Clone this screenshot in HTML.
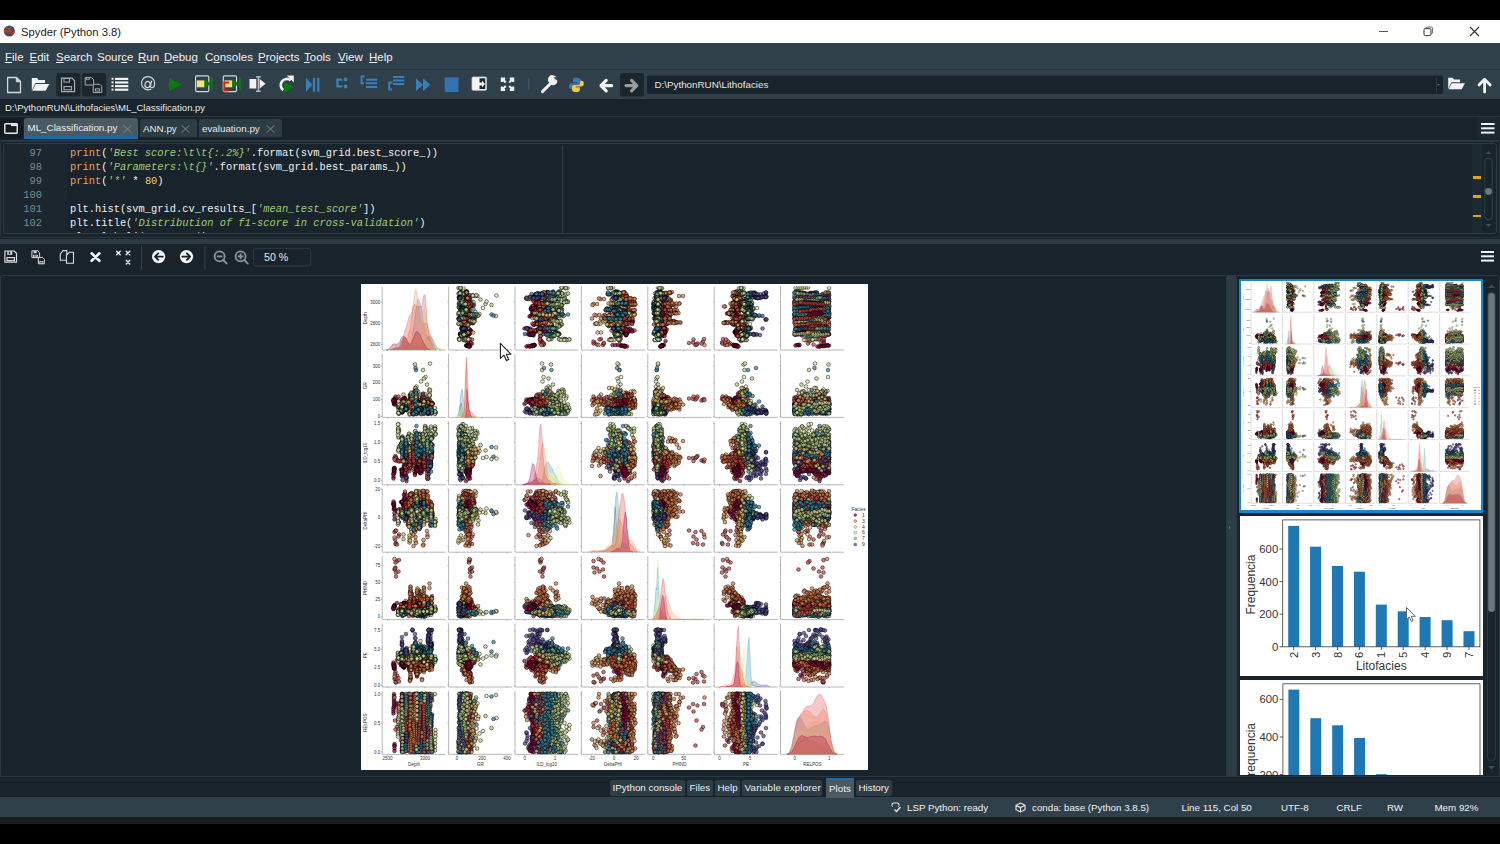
<!DOCTYPE html>
<html><head><meta charset="utf-8">
<style>
*{margin:0;padding:0;box-sizing:border-box}
html,body{width:1500px;height:844px;overflow:hidden;background:#000;font-family:"Liberation Sans",sans-serif;position:relative}
.a{position:absolute}
svg.a{overflow:visible}
#title{left:0;top:20px;width:1500px;height:23px;background:#fff;}
#menu{left:0;top:43px;width:1500px;height:26px;background:#30404a;}
#tool{left:0;top:69px;width:1500px;height:30px;background:#30404a;border-top:1px solid #28353d}
#pathrow{left:0;top:99px;width:1500px;height:18px;background:#19232b;}
#tabrow{left:0;top:117px;width:1500px;height:23px;background:#19232b;}
#editor{left:0;top:140px;width:1500px;height:99px;background:#19232b;}
#split{left:0;top:239px;width:1500px;height:5px;background:#2c3a43;}
#ptool{left:0;top:244px;width:1500px;height:31px;background:#19232b;}
#parea{left:0;top:275px;width:1500px;height:502px;background:#19232b;}
#btabs{left:0;top:777px;width:1500px;height:21px;background:#19232b;}
#status{left:0;top:797px;width:1500px;height:20px;background:#30404a;}
#bstrip{left:0;top:817px;width:1500px;height:7px;background:#1e1e1e;}
.tt{font-size:11.25px;color:#222;top:24.5px;line-height:14px;white-space:nowrap}
.mt{color:#F0F0F0;font-size:11.5px;top:50px;line-height:14px;white-space:nowrap}
.code{font-family:"Liberation Mono",monospace;font-size:10.4px;line-height:14px;white-space:pre;color:#F0F0F0}
.ln{font-family:"Liberation Mono",monospace;font-size:10.4px;line-height:14px;white-space:pre;color:#7d8a92;text-align:right;width:38px}
.st{font-size:9.75px;color:#F0F0F0;top:802px;line-height:12px;white-space:nowrap}
.tab{font-size:10.5px;color:#F0F0F0;line-height:13px;white-space:nowrap}
.kw{color:#e3a05d}.str{color:#9fcb78;font-style:italic}.num{color:#e6d07a}
</style></head><body>
<div class="a" id="title"></div>
<div class="a" id="menu"></div>
<div class="a" id="tool"></div>
<div class="a" id="pathrow"></div>
<div class="a" id="tabrow"></div>
<div class="a" id="editor"></div>
<div class="a" id="split"></div>
<div class="a" id="ptool"></div>
<div class="a" id="parea"></div>
<div class="a" id="btabs"></div>
<div class="a" id="status"></div>
<div class="a" id="bstrip"></div>

<!-- title bar -->
<svg class="a" style="left:3px;top:25px" width="13" height="12" viewBox="0 0 13 12">
<circle cx="6.3" cy="6" r="5.5" fill="#4a4a4a"/>
<path d="M0.8 5 Q3 3.5 5 6 L7 4 L9.5 7.5 L12 5.5 L11.8 7.5 L9.5 9 L7 6.5 L5 8.5 Q3 6 1 7 Z" fill="#e0301e"/>
<path d="M3 2 L6 4 L9 1.8" fill="none" stroke="#888" stroke-width=".8"/>
</svg>
<div class="a tt" style="left:21px">Spyder (Python 3.8)</div>
<div class="a" style="left:1379px;top:30.6px;width:9px;height:1.2px;background:#555"></div>
<svg class="a" style="left:1423px;top:26px" width="11" height="11" viewBox="0 0 11 11"><rect x="1" y="2.6" width="7" height="7" rx="1.2" fill="none" stroke="#333" stroke-width="1"/><path d="M2.8 2.4 Q3 1 4.4 1 H8.3 Q9.6 1 9.6 2.3 V6.2 Q9.6 7.6 8.3 7.8" fill="none" stroke="#555" stroke-width="0.9"/></svg>
<svg class="a" style="left:1469px;top:26px" width="11" height="11" viewBox="0 0 11 11"><path d="M1 1 L10 10 M10 1 L1 10" stroke="#333" stroke-width="1.2"/></svg>

<!-- menu -->
<div class="a mt" style="left:5px"><u>F</u>ile</div>
<div class="a mt" style="left:29.5px"><u>E</u>dit</div>
<div class="a mt" style="left:56px"><u>S</u>earch</div>
<div class="a mt" style="left:97px">Sour<u>c</u>e</div>
<div class="a mt" style="left:138px"><u>R</u>un</div>
<div class="a mt" style="left:164px"><u>D</u>ebug</div>
<div class="a mt" style="left:205px">C<u>o</u>nsoles</div>
<div class="a mt" style="left:258px"><u>P</u>rojects</div>
<div class="a mt" style="left:304px"><u>T</u>ools</div>
<div class="a mt" style="left:338px"><u>V</u>iew</div>
<div class="a mt" style="left:369px"><u>H</u>elp</div>

<!-- toolbar -->
<svg class="a" style="left:0;top:69px" width="1500" height="30" viewBox="0 69 1500 30">
<!-- new file -->
<path d="M7.6 77.5 H16.5 L20.5 81.5 V92.5 H7.6 Z" fill="none" stroke="#d8d8d8" stroke-width="1.3" stroke-linejoin="round"/>
<path d="M16.3 77.6 V81.7 H20.4" fill="#d8d8d8" stroke="#d8d8d8" stroke-width="1"/>
<!-- open folder -->
<path d="M31.8 78 H37 L38.5 80 H45 V83 H35.5 L31.8 90.5 Z" fill="#f2f2f2"/>
<path d="M35.8 84 H49.4 L45.6 90.8 H32.2 Z" fill="#f2f2f2"/>
<!-- save bg -->
<rect x="56.3" y="73" width="24" height="23.4" rx="2.5" fill="#1a252c"/>
<path d="M61.5 78.2 H72 L74.6 80.8 V91.6 H61.5 Z" fill="none" stroke="#a9adb0" stroke-width="1.2"/>
<rect x="64" y="78.5" width="5.5" height="3.6" fill="none" stroke="#a9adb0" stroke-width="1"/>
<rect x="64" y="86.6" width="7.5" height="3.2" fill="none" stroke="#a9adb0" stroke-width="1.1"/>
<!-- save all bg -->
<rect x="81.9" y="73" width="24.3" height="23.4" rx="2.5" fill="#1a252c"/>
<path d="M85.2 77.6 H91.5 L93.6 79.7 V85 H85.2 Z" fill="none" stroke="#a9adb0" stroke-width="1"/>
<path d="M93.2 84.3 H99.8 L101.8 86.3 V92.5 H93.2 Z" fill="#1a252c" stroke="#a9adb0" stroke-width="1"/>
<rect x="95.3" y="88.8" width="4.3" height="2.2" fill="none" stroke="#a9adb0" stroke-width="0.9"/>
<rect x="86.6" y="77.7" width="2.6" height="2" fill="none" stroke="#a9adb0" stroke-width="0.8"/>
<!-- list -->
<g fill="#f0f0f0"><rect x="111.5" y="77.8" width="2" height="2"/><rect x="111.5" y="81.4" width="2" height="2"/><rect x="111.5" y="85" width="2" height="2"/><rect x="111.5" y="88.6" width="2" height="2"/>
<rect x="115" y="77.8" width="13.3" height="2.2"/><rect x="115" y="81.4" width="13.3" height="2.2"/><rect x="115" y="85" width="13.3" height="2.2"/><rect x="115" y="88.6" width="13.3" height="2.2"/></g>
<!-- @ -->
<path d="M151.3 88.9 A6.6 6.6 0 1 1 154.6 83.4 Q154.6 87.6 151.8 87.6 Q150.2 87.6 150.6 85.5 L151.6 80.6" fill="none" stroke="#d6d6d6" stroke-width="1.2"/><ellipse cx="147.6" cy="84.6" rx="2.6" ry="3.1" fill="none" stroke="#d6d6d6" stroke-width="1.2" transform="rotate(15 147.6 84.6)"/>
<!-- play -->
<path d="M169 77.8 L181.6 84.5 L169 91.2 Z" fill="#0a7a0a"/>
<!-- run cell -->
<rect x="195.6" y="75.8" width="13.2" height="15.8" rx="1.3" fill="none" stroke="#d6d6d6" stroke-width="1.2"/>
<rect x="196.8" y="80.4" width="7.8" height="6.9" fill="#f5e27a"/>
<path d="M204.5 79 L211 83.8 L204.5 88.6 Z" fill="#0a7a0a"/><rect x="211" y="77.4" width="1.9" height="12.2" fill="#0a7a0a"/>
<!-- run cell advance -->
<rect x="223.3" y="75.8" width="13.2" height="15.8" rx="1.3" fill="none" stroke="#d6d6d6" stroke-width="1.2"/>
<rect x="224.5" y="80.4" width="7.8" height="6.9" fill="#f5e27a"/>
<path d="M232.5 79 L239 83.8 L232.5 88.6 Z" fill="#0a7a0a"/><rect x="239" y="77.4" width="1.9" height="12.2" fill="#0a7a0a"/>
<path d="M229 82.5 H224.3 V90.5 H228.5" fill="none" stroke="#ee1c0a" stroke-width="2"/>
<!-- run selection -->
<rect x="249.5" y="79" width="6.8" height="9.5" fill="#f2f2f2"/>
<rect x="257.6" y="76" width="1.6" height="16" fill="#b8b8b8"/>
<rect x="256" y="76.2" width="4.8" height="1.4" fill="#b8b8b8"/><rect x="256" y="90.6" width="4.8" height="1.4" fill="#b8b8b8"/>
<path d="M259.6 79 L265.6 83.8 L259.6 88.6 Z" fill="#f2f2f2"/>
<!-- re-run -->
<path d="M290.8 80.2 A6.2 6.2 0 1 0 283.2 90.2" fill="none" stroke="#f2f2f2" stroke-width="2.6"/>
<path d="M286.8 75.6 H293.8 V82.6 Z" fill="#f2f2f2"/>
<path d="M284.2 82 L293.8 87 L284.2 92.8 Z" fill="#0a7a0a"/>
<!-- debug -->
<g fill="#3a7ebd"><path d="M306 77.8 L312.4 84.7 L306 91.7 Z"/><rect x="312.9" y="77.8" width="2.2" height="13.9"/><rect x="317.2" y="77.8" width="2.2" height="13.9"/></g>
<!-- blue icons -->
<g fill="none" stroke="#3a7ebd" stroke-width="2.3">
<path d="M342 79.6 H337.4 V86.4 H342"/>
</g>
<g fill="#3a7ebd"><circle cx="345.5" cy="79.4" r="1.9"/><circle cx="345.5" cy="86.5" r="1.9"/></g>
<g fill="none" stroke="#3a7ebd" stroke-width="2">
<path d="M364.5 76.4 H361.6 V83.2 H364"/><path d="M366 79.7 H377.2 M366 83.3 H377.2 M366 86.9 H377.2"/>
</g>
<g fill="none" stroke="#3a7ebd" stroke-width="2">
<path d="M392.5 82.5 H389.2 V89.5 H392"/><path d="M393 76.9 H404.3 M393 80.5 H404.3 M393 84.1 H404.3"/>
</g>
<g fill="#3a7ebd"><path d="M416 78.2 L423 84.7 L416 91.2 Z"/><path d="M423 78.2 L430.3 84.7 L423 91.2 Z"/></g>
<rect x="444.6" y="77.4" width="13.9" height="14.7" fill="#3572b0"/>
<!-- white box arrow -->
<rect x="472" y="77" width="14.5" height="13.3" rx="1.2" fill="#f4f4f4" stroke="#d0d0d0" stroke-width="0.8"/>
<path d="M479.5 78.3 H485.3 V89 H479.5 Z" fill="#1c262c"/>
<path d="M478.3 82.6 H482 V80.4 L485 84 L482 87.6 V85.4 H478.3 Z" fill="#f4f4f4"/>
<!-- maximize -->
<g fill="none" stroke="#f0f0f0" stroke-width="2.1">
<path d="M501.8 78.6 L505.8 82.6 M501.8 82 V78.6 H505.2"/><path d="M513.2 78.6 L509.2 82.6 M513.2 82 V78.6 H509.8"/>
<path d="M501.8 90 L505.8 86 M501.8 86.6 V90 H505.2"/><path d="M513.2 90 L509.2 86 M513.2 86.6 V90 H509.8"/>
</g>
<rect x="528.3" y="78.7" width="1" height="10.8" fill="#4d5d66"/>
<!-- wrench -->
<path d="M542.6 91.5 L550.5 83.5" stroke="#f0f0f0" stroke-width="3.2" stroke-linecap="round"/>
<path d="M550 83 A4.3 4.3 0 1 1 556.5 80.5 L554 80.8 L552.4 79 L553.5 77.4 A4.3 4.3 0 0 0 550 83Z" fill="#f0f0f0"/>
<circle cx="553" cy="81" r="4.3" fill="#f0f0f0"/><path d="M553.5 77.5 L557.5 81 L556.5 77 Z" fill="#30404a"/>
<!-- python -->
<path d="M576.5 77.8 C573 77.8 573 79 573 80.5 V82.5 H577 V83.3 H571.3 C569.4 83.3 569 85 569 86.2 C569 88 569.6 89 571.2 89 H572.6 V87 C572.6 85.6 573.8 84.8 575 84.8 H578.8 C580.1 84.8 580.8 84 580.8 82.8 V80.4 C580.8 78.6 579 77.8 576.5 77.8 Z" fill="#3b77b0"/>
<path d="M576.3 92 C579.8 92 579.8 90.8 579.8 89.3 V87.3 H575.8 V86.5 H581.5 C583.4 86.5 583.8 84.8 583.8 83.6 C583.8 81.8 583.2 80.8 581.6 80.8 H580.2 V82.8 C580.2 84.2 579 85 577.8 85 H574 C572.7 85 572 85.8 572 87 V89.4 C572 91.2 573.8 92 576.3 92 Z" fill="#f0cc3c"/>
<!-- back -->
<path d="M611.8 85.6 H601 M606.2 80.4 L601 85.6 L606.2 90.8" fill="none" stroke="#f4f4f4" stroke-width="3.2" stroke-linecap="round" stroke-linejoin="round"/>
<!-- forward bg -->
<rect x="620" y="73" width="24" height="23.4" rx="2.5" fill="#1a252c"/>
<path d="M626 85.6 H636.8 M631.6 80.4 L636.8 85.6 L631.6 90.8" fill="none" stroke="#9a9a9a" stroke-width="3.2" stroke-linecap="round" stroke-linejoin="round"/>
<!-- combo -->
<rect x="647" y="75.5" width="796" height="18.5" rx="2" fill="#19232b"/>
<rect x="1436" y="77" width="1" height="15.5" fill="#2a3740"/>
<path d="M1437 84 L1440 84 L1438.5 85.5 Z" fill="#6a767e"/>
<text x="654.5" y="88.2" font-family="Liberation Sans" font-size="9.8" fill="#e8e8e8">D:\PythonRUN\Lithofacies</text>
<!-- open folder right -->
<path d="M1448.2 77.8 H1452.5 L1454 79.5 H1460 V82.3 H1451.5 L1448.2 89 Z" fill="#f2f2f2"/>
<path d="M1451.8 83.2 H1465 L1461.6 89.3 H1448.6 Z" fill="#f2f2f2"/>
<!-- up arrow -->
<path d="M1484.6 92 V80 M1479 85 L1484.6 79.2 L1490.2 85" fill="none" stroke="#f4f4f4" stroke-width="2.8" stroke-linecap="round" stroke-linejoin="round"/>
</svg>


<!-- path row -->
<div class="a" style="left:5px;top:101px;font-size:9.5px;color:#e8e8e8;line-height:13px;white-space:nowrap">D:\PythonRUN\Lithofacies\ML_Classification.py</div>

<!-- tabs -->
<div class="a" style="left:0;top:116px;width:1500px;height:1px;background:#28353d"></div>
<div class="a" style="left:0;top:117.5px;width:23px;height:21px;background:#121b21;border-radius:3px"></div>
<svg class="a" style="left:4px;top:123px" width="14" height="11" viewBox="0 0 14 11"><rect x="0.8" y="0.8" width="12.4" height="9.4" rx="0.8" fill="none" stroke="#e8e8e8" stroke-width="1.4"/><rect x="7" y="0.5" width="6.5" height="2.6" fill="#e8e8e8"/></svg>
<div class="a" style="left:24px;top:117.5px;width:114px;height:21.5px;background:#4b5962;border-radius:3px 3px 0 0"></div>
<div class="a" style="left:24px;top:136px;width:114px;height:3px;background:#1d6aa5"></div>
<div class="a tab" style="left:27.5px;top:121px;font-size:9.8px;color:#f0f0f0">ML_Classification.py</div>
<svg class="a" style="left:122.5px;top:125px" width="9" height="8" viewBox="0 0 9 8"><path d="M0.5 0.3 L8.5 7.7 M8.5 0.3 L0.5 7.7" stroke="#7c8890" stroke-width="1"/></svg>
<div class="a" style="left:140px;top:119.4px;width:56.5px;height:18px;background:#2e3c45;border-radius:3px 3px 0 0"></div>
<div class="a tab" style="left:143px;top:122px;font-size:9.8px;color:#e8e8e8">ANN.py</div>
<svg class="a" style="left:181px;top:125px" width="9" height="8" viewBox="0 0 9 8"><path d="M0.5 0.3 L8.5 7.7 M8.5 0.3 L0.5 7.7" stroke="#7c8890" stroke-width="1"/></svg>
<div class="a" style="left:198.5px;top:119.4px;width:83px;height:18px;background:#2e3c45;border-radius:3px 3px 0 0"></div>
<div class="a tab" style="left:202px;top:122px;font-size:9.8px;color:#e8e8e8">evaluation.py</div>
<svg class="a" style="left:266px;top:125px" width="9" height="8" viewBox="0 0 9 8"><path d="M0.5 0.3 L8.5 7.7 M8.5 0.3 L0.5 7.7" stroke="#7c8890" stroke-width="1"/></svg>
<div class="a" style="left:1477px;top:117px;width:23px;height:22px;background:#1c2730;border-radius:2px"></div>
<svg class="a" style="left:1481px;top:122.5px" width="14" height="11" viewBox="0 0 14 11"><g fill="#f0f0f0"><rect x="0" y="0" width="13.5" height="2"/><rect x="0" y="4.3" width="13.5" height="2"/><rect x="0" y="8.6" width="13.5" height="2"/></g></svg>


<!-- editor -->
<div class="a" style="left:0;top:139.5px;width:1500px;height:1px;background:#2a3841"></div>
<div class="a" style="left:0;top:140.5px;width:1500px;height:97px;border:1px solid #27343c;border-radius:3px;background:#19232b"></div>
<div class="a" style="left:3px;top:142.5px;width:1494px;height:91.5px;border:1px solid #2c3a43;border-radius:3px;background:#19232b"></div>
<div class="a" style="left:4px;top:143.5px;width:63px;height:89.5px;background:#1b262e"></div>
<div class="a" style="left:0;top:143.5px;width:1470px;height:89.4px;overflow:hidden"><div class="a ln" style="left:4px;top:2.2px">97
98
99
100
101
102</div>
<div class="a code" style="left:70px;top:2.2px"><span class="kw">print</span>(<span class="str">'Best score:\t\t{:.2%}'</span>.format(svm_grid.best_score_))
<span class="kw">print</span>(<span class="str">'Parameters:\t{}'</span>.format(svm_grid.best_params_))
<span class="kw">print</span>(<span class="str">'*'</span> * <span class="num">80</span>)

plt.hist(svm_grid.cv_results_[<span class="str">'mean_test_score'</span>])
plt.title(<span class="str">'Distribution of f1-score in cross-validation'</span>)
plt.xlabel(<span class="str">'F1-Score'</span>)</div></div>
<div class="a" style="left:562px;top:145px;width:1px;height:88px;background:#2f3c44"></div>
<div class="a" style="left:1472px;top:144px;width:10px;height:89px;background:#1e2a32"></div>
<div class="a" style="left:1473px;top:176px;width:8px;height:2.5px;background:#e8a21e"></div>
<div class="a" style="left:1473px;top:195.4px;width:8px;height:2.2px;background:#e8a21e"></div>
<div class="a" style="left:1473px;top:214.8px;width:8px;height:2.5px;background:#e8a21e"></div>
<svg class="a" style="left:1483px;top:148px" width="12" height="82" viewBox="0 0 12 82">
<path d="M2.5 6 L5.5 3 L8.5 6 Z" fill="#3f4d56"/>
<rect x="1.8" y="10" width="7.4" height="62" rx="3.7" fill="none" stroke="#34434c" stroke-width="0.9"/>
<circle cx="5.5" cy="43.5" r="3.4" fill="#6d7981"/>
<path d="M2.5 76 L5.5 79 L8.5 76 Z" fill="#3f4d56"/>
</svg>


<!-- plots toolbar -->
<svg class="a" style="left:0;top:244px" width="320" height="31" viewBox="0 244 320 31">
<!-- save -->
<path d="M4.9 251 H14.2 L16.5 253.3 V262.1 H4.9 Z" fill="none" stroke="#d8d8d8" stroke-width="1.2"/>
<rect x="7.2" y="251.2" width="5" height="3.6" fill="#d8d8d8"/><rect x="8.8" y="251.8" width="1.4" height="2.2" fill="#19232b"/>
<rect x="7" y="257.6" width="7.4" height="3" fill="none" stroke="#d8d8d8" stroke-width="1.2"/>
<!-- save all -->
<path d="M31.9 250.8 H37.7 L39.6 252.7 V257.6 H31.9 Z" fill="none" stroke="#d8d8d8" stroke-width="1"/>
<rect x="33.6" y="251" width="3" height="2.2" fill="#d8d8d8"/><rect x="33.4" y="255.2" width="4.2" height="1.6" fill="none" stroke="#d8d8d8" stroke-width="0.8"/>
<path d="M38.3 257.4 H42.4 L44.4 259.4 V263.8 H38.3 Z" fill="#19232b" stroke="#d8d8d8" stroke-width="1"/>
<rect x="39.7" y="261.5" width="3.2" height="1.6" fill="none" stroke="#d8d8d8" stroke-width="0.8"/>
<!-- copy -->
<path d="M60.3 254 L63 250.6 H66.8 V260.2 H60.3 Z" fill="none" stroke="#d8d8d8" stroke-width="1.1"/>
<path d="M66.5 255.2 L69.5 252.2 H73.5 V263.3 H66.5 Z" fill="#19232b" stroke="#d8d8d8" stroke-width="1.1"/>
<path d="M66.2 255.7 L69.6 251.8" stroke="#d8d8d8" stroke-width="1"/>
<!-- x -->
<path d="M91.6 253.3 L99.4 260.8 M99.4 253.3 L91.6 260.8" stroke="#f4f4f4" stroke-width="2.6" stroke-linecap="round"/>
<!-- xxx -->
<g stroke="#f0f0f0" stroke-width="1.4" stroke-linecap="round"><path d="M116.6 251.2 L120.2 254.8 M120.2 251.2 L116.6 254.8"/><path d="M126.2 251.2 L129.8 254.8 M129.8 251.2 L126.2 254.8"/><path d="M126.2 260.3 L129.8 263.9 M129.8 260.3 L126.2 263.9"/></g>
<rect x="141" y="245.6" width="1" height="24" fill="#34424b"/>
<!-- arrows -->
<circle cx="158.6" cy="256.6" r="6.6" fill="#f4f4f4"/>
<path d="M162.8 256.6 H155.2 M158.2 253.4 L155 256.6 L158.2 259.8" fill="none" stroke="#19232b" stroke-width="1.9" stroke-linecap="round" stroke-linejoin="round"/>
<circle cx="186.5" cy="256.6" r="6.6" fill="#f4f4f4"/>
<path d="M182.3 256.6 H189.9 M186.9 253.4 L190.1 256.6 L186.9 259.8" fill="none" stroke="#19232b" stroke-width="1.9" stroke-linecap="round" stroke-linejoin="round"/>
<rect x="204.4" y="245.6" width="1" height="24" fill="#34424b"/>
<!-- zoom -->
<g fill="none" stroke="#8f9599" stroke-width="1.8"><circle cx="219.6" cy="256.4" r="5"/><path d="M223.2 260 L226.8 263.6" stroke-linecap="round"/><path d="M216.8 256.4 H222.4"/>
<circle cx="240.6" cy="256.4" r="5"/><path d="M244.2 260 L247.8 263.6" stroke-linecap="round"/><path d="M237.8 256.4 H243.4 M240.6 253.6 V259.2"/></g>
<rect x="253.6" y="248.4" width="57.2" height="17.6" rx="2.5" fill="#19232b" stroke="#2c3a43" stroke-width="1"/>
<text x="264" y="261.4" font-family="Liberation Sans" font-size="10.6" fill="#e8e8e8">50 %</text>
</svg>
<svg class="a" style="left:1481px;top:251px" width="14" height="11" viewBox="0 0 14 11"><g fill="#f0f0f0"><rect x="0" y="0" width="13" height="2"/><rect x="0" y="4.3" width="13" height="2"/><rect x="0" y="8.6" width="13" height="2"/></g></svg>


<!-- plot area -->
<div class="a" style="left:0;top:275px;width:1227px;height:502px;border:1px solid #2a3841;border-radius:2px;background:#19232b"></div>
<div class="a" style="left:1227px;top:275px;width:8.5px;height:502px;background:#2e3c45"></div>
<div class="a" style="left:1229px;top:526px;width:1px;height:3px;background:#5a6870"></div>
<div class="a" style="left:1235.5px;top:275px;width:264.5px;height:502px;border:1px solid #2a3841;border-radius:2px;background:#19232b"></div>
<!-- scrollbar -->
<svg class="a" style="left:1485px;top:280px" width="13" height="494" viewBox="0 0 13 494">
<path d="M3 8 L6.5 4.5 L10 8 Z" fill="#3f4d56"/>
<rect x="2.5" y="12" width="8" height="469" rx="4" fill="none" stroke="#2c3a43" stroke-width="0.9"/>
<rect x="3.2" y="13" width="6.6" height="319" rx="3.3" fill="#6b777f"/>
<path d="M3 486 L6.5 489.5 L10 486 Z" fill="#3f4d56"/>
</svg>
<!-- thumb 1 -->
<div class="a" style="left:1239px;top:278.5px;width:244px;height:234px;background:#1a87cc;border-radius:1px"></div>
<div class="a" style="left:1241px;top:280.7px;width:240px;height:229.6px;background:#fff;overflow:hidden"><svg width="240" height="229.6" viewBox="361 284 507 486" preserveAspectRatio="none"><use href="#pp"/></svg></div>
<!-- thumb 2 -->
<div class="a" style="left:1239.5px;top:516px;width:243px;height:159.5px;background:#fff;overflow:hidden"><svg width="243" height="159.5" viewBox="0 0 243 159.5" style="display:block"><rect x="48.2" y="9.9" width="11.0" height="120.9" fill="#1f77b4"/><rect x="70.1" y="30.7" width="11.0" height="100.1" fill="#1f77b4"/><rect x="92.0" y="50.0" width="11.0" height="80.8" fill="#1f77b4"/><rect x="113.9" y="55.7" width="11.0" height="75.1" fill="#1f77b4"/><rect x="135.8" y="88.6" width="11.0" height="42.2" fill="#1f77b4"/><rect x="157.7" y="95.3" width="11.0" height="35.5" fill="#1f77b4"/><rect x="179.6" y="101.0" width="11.0" height="29.8" fill="#1f77b4"/><rect x="201.6" y="104.2" width="11.0" height="26.6" fill="#1f77b4"/><rect x="223.5" y="115.2" width="11.0" height="15.6" fill="#1f77b4"/><rect x="42.7" y="3.9" width="197.2" height="126.9" fill="none" stroke="#3a3a3a" stroke-width=".8"/><g font-family="Liberation Sans" font-size="11.3" fill="#333"><path d="M42.7 130.8h-3.2" stroke="#333" stroke-width=".8"/><text x="38.2" y="134.8" text-anchor="end">0</text><path d="M42.7 98.2h-3.2" stroke="#333" stroke-width=".8"/><text x="38.2" y="102.2" text-anchor="end">200</text><path d="M42.7 65.6h-3.2" stroke="#333" stroke-width=".8"/><text x="38.2" y="69.6" text-anchor="end">400</text><path d="M42.7 33.0h-3.2" stroke="#333" stroke-width=".8"/><text x="38.2" y="37.0" text-anchor="end">600</text><path d="M53.7 130.8v3.2" stroke="#333" stroke-width=".8"/><text transform="translate(57.7 135.8) rotate(-90)" text-anchor="end">2</text><path d="M75.6 130.8v3.2" stroke="#333" stroke-width=".8"/><text transform="translate(79.6 135.8) rotate(-90)" text-anchor="end">3</text><path d="M97.5 130.8v3.2" stroke="#333" stroke-width=".8"/><text transform="translate(101.5 135.8) rotate(-90)" text-anchor="end">8</text><path d="M119.4 130.8v3.2" stroke="#333" stroke-width=".8"/><text transform="translate(123.4 135.8) rotate(-90)" text-anchor="end">6</text><path d="M141.3 130.8v3.2" stroke="#333" stroke-width=".8"/><text transform="translate(145.3 135.8) rotate(-90)" text-anchor="end">1</text><path d="M163.2 130.8v3.2" stroke="#333" stroke-width=".8"/><text transform="translate(167.2 135.8) rotate(-90)" text-anchor="end">5</text><path d="M185.1 130.8v3.2" stroke="#333" stroke-width=".8"/><text transform="translate(189.1 135.8) rotate(-90)" text-anchor="end">4</text><path d="M207.0 130.8v3.2" stroke="#333" stroke-width=".8"/><text transform="translate(211.0 135.8) rotate(-90)" text-anchor="end">9</text><path d="M228.9 130.8v3.2" stroke="#333" stroke-width=".8"/><text transform="translate(232.9 135.8) rotate(-90)" text-anchor="end">7</text><text x="141.3" y="154.0" text-anchor="middle" font-size="12">Litofacies</text><text transform="translate(14.5 68.6) rotate(-90)" text-anchor="middle" font-size="12">Frequencia</text></g></svg></div>
<!-- thumb 3 -->
<div class="a" style="left:1239.5px;top:680.3px;width:243px;height:94.3px;background:#fff;overflow:hidden"><svg width="243" height="159.5" viewBox="0 0 243 159.5" style="display:block"><rect x="48.4" y="9.6" width="10.9" height="122.6" fill="#1f77b4"/><rect x="70.3" y="38.2" width="10.9" height="94.0" fill="#1f77b4"/><rect x="92.2" y="45.3" width="10.9" height="86.9" fill="#1f77b4"/><rect x="114.1" y="57.9" width="10.9" height="74.3" fill="#1f77b4"/><rect x="136.0" y="94.2" width="10.9" height="38.0" fill="#1f77b4"/><rect x="157.9" y="100.2" width="10.9" height="32.0" fill="#1f77b4"/><rect x="179.8" y="104.0" width="10.9" height="28.2" fill="#1f77b4"/><rect x="201.7" y="107.8" width="10.9" height="24.4" fill="#1f77b4"/><rect x="223.6" y="117.2" width="10.9" height="15.0" fill="#1f77b4"/><rect x="42.9" y="3.8" width="197.1" height="196.2" fill="none" stroke="#3a3a3a" stroke-width=".8"/><g font-family="Liberation Sans" font-size="11.3" fill="#333"><path d="M42.9 132.2h-3.2" stroke="#333" stroke-width=".8"/><text x="38.4" y="136.2" text-anchor="end">0</text><path d="M42.9 94.6h-3.2" stroke="#333" stroke-width=".8"/><text x="38.4" y="98.6" text-anchor="end">200</text><path d="M42.9 57.0h-3.2" stroke="#333" stroke-width=".8"/><text x="38.4" y="61.0" text-anchor="end">400</text><path d="M42.9 19.4h-3.2" stroke="#333" stroke-width=".8"/><text x="38.4" y="23.4" text-anchor="end">600</text><text transform="translate(14.5 73.0) rotate(-90)" text-anchor="middle" font-size="12">Frequencia</text></g></svg></div>
<svg class="a" style="left:361px;top:284px" width="507" height="486" viewBox="361 284 507 486"><defs><g id="pp"><rect x="361" y="284" width="507" height="486" fill="#fff"/><path d="M382.2 286.5V350.0H445.7M448.6 286.5V350.0H512.1M515.0 286.5V350.0H578.5M581.4 286.5V350.0H644.9M647.8 286.5V350.0H711.3M714.2 286.5V350.0H777.7M780.6 286.5V350.0H844.1M382.2 353.9V417.4H445.7M448.6 353.9V417.4H512.1M515.0 353.9V417.4H578.5M581.4 353.9V417.4H644.9M647.8 353.9V417.4H711.3M714.2 353.9V417.4H777.7M780.6 353.9V417.4H844.1M382.2 421.3V484.8H445.7M448.6 421.3V484.8H512.1M515.0 421.3V484.8H578.5M581.4 421.3V484.8H644.9M647.8 421.3V484.8H711.3M714.2 421.3V484.8H777.7M780.6 421.3V484.8H844.1M382.2 488.7V552.2H445.7M448.6 488.7V552.2H512.1M515.0 488.7V552.2H578.5M581.4 488.7V552.2H644.9M647.8 488.7V552.2H711.3M714.2 488.7V552.2H777.7M780.6 488.7V552.2H844.1M382.2 556.1V619.6H445.7M448.6 556.1V619.6H512.1M515.0 556.1V619.6H578.5M581.4 556.1V619.6H644.9M647.8 556.1V619.6H711.3M714.2 556.1V619.6H777.7M780.6 556.1V619.6H844.1M382.2 623.5V687.0H445.7M448.6 623.5V687.0H512.1M515.0 623.5V687.0H578.5M581.4 623.5V687.0H644.9M647.8 623.5V687.0H711.3M714.2 623.5V687.0H777.7M780.6 623.5V687.0H844.1M382.2 690.9V754.4H445.7M448.6 690.9V754.4H512.1M515.0 690.9V754.4H578.5M581.4 690.9V754.4H644.9M647.8 690.9V754.4H711.3M714.2 690.9V754.4H777.7M780.6 690.9V754.4H844.1" fill="none" stroke="#a6a6a6" stroke-width=".8"/><path d="M387.5 350.0v1.2M425.0 350.0v1.2M382.2 344.3h-1.2M382.2 323.2h-1.2M382.2 302.1h-1.2M457.0 350.0v1.2M482.0 350.0v1.2M507.0 350.0v1.2M448.6 344.3h-1.2M448.6 323.2h-1.2M448.6 302.1h-1.2M524.7 350.0v1.2M555.0 350.0v1.2M515.0 344.3h-1.2M515.0 323.2h-1.2M515.0 302.1h-1.2M591.7 350.0v1.2M614.0 350.0v1.2M636.2 350.0v1.2M581.4 344.3h-1.2M581.4 323.2h-1.2M581.4 302.1h-1.2M653.2 350.0v1.2M683.8 350.0v1.2M647.8 344.3h-1.2M647.8 323.2h-1.2M647.8 302.1h-1.2M719.5 350.0v1.2M750.0 350.0v1.2M714.2 344.3h-1.2M714.2 323.2h-1.2M714.2 302.1h-1.2M794.7 350.0v1.2M829.2 350.0v1.2M780.6 344.3h-1.2M780.6 323.2h-1.2M780.6 302.1h-1.2M387.5 417.4v1.2M425.0 417.4v1.2M382.2 416.4h-1.2M382.2 399.7h-1.2M382.2 382.9h-1.2M382.2 366.2h-1.2M457.0 417.4v1.2M482.0 417.4v1.2M507.0 417.4v1.2M448.6 416.4h-1.2M448.6 399.7h-1.2M448.6 382.9h-1.2M448.6 366.2h-1.2M524.7 417.4v1.2M555.0 417.4v1.2M515.0 416.4h-1.2M515.0 399.7h-1.2M515.0 382.9h-1.2M515.0 366.2h-1.2M591.7 417.4v1.2M614.0 417.4v1.2M636.2 417.4v1.2M581.4 416.4h-1.2M581.4 399.7h-1.2M581.4 382.9h-1.2M581.4 366.2h-1.2M653.2 417.4v1.2M683.8 417.4v1.2M647.8 416.4h-1.2M647.8 399.7h-1.2M647.8 382.9h-1.2M647.8 366.2h-1.2M719.5 417.4v1.2M750.0 417.4v1.2M714.2 416.4h-1.2M714.2 399.7h-1.2M714.2 382.9h-1.2M714.2 366.2h-1.2M794.7 417.4v1.2M829.2 417.4v1.2M780.6 416.4h-1.2M780.6 399.7h-1.2M780.6 382.9h-1.2M780.6 366.2h-1.2M387.5 484.8v1.2M425.0 484.8v1.2M382.2 480.6h-1.2M382.2 461.5h-1.2M382.2 442.5h-1.2M382.2 423.4h-1.2M457.0 484.8v1.2M482.0 484.8v1.2M507.0 484.8v1.2M448.6 480.6h-1.2M448.6 461.5h-1.2M448.6 442.5h-1.2M448.6 423.4h-1.2M524.7 484.8v1.2M555.0 484.8v1.2M515.0 480.6h-1.2M515.0 461.5h-1.2M515.0 442.5h-1.2M515.0 423.4h-1.2M591.7 484.8v1.2M614.0 484.8v1.2M636.2 484.8v1.2M581.4 480.6h-1.2M581.4 461.5h-1.2M581.4 442.5h-1.2M581.4 423.4h-1.2M653.2 484.8v1.2M683.8 484.8v1.2M647.8 480.6h-1.2M647.8 461.5h-1.2M647.8 442.5h-1.2M647.8 423.4h-1.2M719.5 484.8v1.2M750.0 484.8v1.2M714.2 480.6h-1.2M714.2 461.5h-1.2M714.2 442.5h-1.2M714.2 423.4h-1.2M794.7 484.8v1.2M829.2 484.8v1.2M780.6 480.6h-1.2M780.6 461.5h-1.2M780.6 442.5h-1.2M780.6 423.4h-1.2M387.5 552.2v1.2M425.0 552.2v1.2M382.2 546.5h-1.2M382.2 517.9h-1.2M382.2 489.3h-1.2M457.0 552.2v1.2M482.0 552.2v1.2M507.0 552.2v1.2M448.6 546.5h-1.2M448.6 517.9h-1.2M448.6 489.3h-1.2M524.7 552.2v1.2M555.0 552.2v1.2M515.0 546.5h-1.2M515.0 517.9h-1.2M515.0 489.3h-1.2M591.7 552.2v1.2M614.0 552.2v1.2M636.2 552.2v1.2M581.4 546.5h-1.2M581.4 517.9h-1.2M581.4 489.3h-1.2M653.2 552.2v1.2M683.8 552.2v1.2M647.8 546.5h-1.2M647.8 517.9h-1.2M647.8 489.3h-1.2M719.5 552.2v1.2M750.0 552.2v1.2M714.2 546.5h-1.2M714.2 517.9h-1.2M714.2 489.3h-1.2M794.7 552.2v1.2M829.2 552.2v1.2M780.6 546.5h-1.2M780.6 517.9h-1.2M780.6 489.3h-1.2M387.5 619.6v1.2M425.0 619.6v1.2M382.2 616.7h-1.2M382.2 599.6h-1.2M382.2 582.5h-1.2M382.2 565.4h-1.2M457.0 619.6v1.2M482.0 619.6v1.2M507.0 619.6v1.2M448.6 616.7h-1.2M448.6 599.6h-1.2M448.6 582.5h-1.2M448.6 565.4h-1.2M524.7 619.6v1.2M555.0 619.6v1.2M515.0 616.7h-1.2M515.0 599.6h-1.2M515.0 582.5h-1.2M515.0 565.4h-1.2M591.7 619.6v1.2M614.0 619.6v1.2M636.2 619.6v1.2M581.4 616.7h-1.2M581.4 599.6h-1.2M581.4 582.5h-1.2M581.4 565.4h-1.2M653.2 619.6v1.2M683.8 619.6v1.2M647.8 616.7h-1.2M647.8 599.6h-1.2M647.8 582.5h-1.2M647.8 565.4h-1.2M719.5 619.6v1.2M750.0 619.6v1.2M714.2 616.7h-1.2M714.2 599.6h-1.2M714.2 582.5h-1.2M714.2 565.4h-1.2M794.7 619.6v1.2M829.2 619.6v1.2M780.6 616.7h-1.2M780.6 599.6h-1.2M780.6 582.5h-1.2M780.6 565.4h-1.2M387.5 687.0v1.2M425.0 687.0v1.2M382.2 685.6h-1.2M382.2 667.3h-1.2M382.2 649.1h-1.2M382.2 630.8h-1.2M457.0 687.0v1.2M482.0 687.0v1.2M507.0 687.0v1.2M448.6 685.6h-1.2M448.6 667.3h-1.2M448.6 649.1h-1.2M448.6 630.8h-1.2M524.7 687.0v1.2M555.0 687.0v1.2M515.0 685.6h-1.2M515.0 667.3h-1.2M515.0 649.1h-1.2M515.0 630.8h-1.2M591.7 687.0v1.2M614.0 687.0v1.2M636.2 687.0v1.2M581.4 685.6h-1.2M581.4 667.3h-1.2M581.4 649.1h-1.2M581.4 630.8h-1.2M653.2 687.0v1.2M683.8 687.0v1.2M647.8 685.6h-1.2M647.8 667.3h-1.2M647.8 649.1h-1.2M647.8 630.8h-1.2M719.5 687.0v1.2M750.0 687.0v1.2M714.2 685.6h-1.2M714.2 667.3h-1.2M714.2 649.1h-1.2M714.2 630.8h-1.2M794.7 687.0v1.2M829.2 687.0v1.2M780.6 685.6h-1.2M780.6 667.3h-1.2M780.6 649.1h-1.2M780.6 630.8h-1.2M387.5 754.4v1.2M425.0 754.4v1.2M382.2 752.0h-1.2M382.2 723.1h-1.2M382.2 694.2h-1.2M457.0 754.4v1.2M482.0 754.4v1.2M507.0 754.4v1.2M448.6 752.0h-1.2M448.6 723.1h-1.2M448.6 694.2h-1.2M524.7 754.4v1.2M555.0 754.4v1.2M515.0 752.0h-1.2M515.0 723.1h-1.2M515.0 694.2h-1.2M591.7 754.4v1.2M614.0 754.4v1.2M636.2 754.4v1.2M581.4 752.0h-1.2M581.4 723.1h-1.2M581.4 694.2h-1.2M653.2 754.4v1.2M683.8 754.4v1.2M647.8 752.0h-1.2M647.8 723.1h-1.2M647.8 694.2h-1.2M719.5 754.4v1.2M750.0 754.4v1.2M714.2 752.0h-1.2M714.2 723.1h-1.2M714.2 694.2h-1.2M794.7 754.4v1.2M829.2 754.4v1.2M780.6 752.0h-1.2M780.6 723.1h-1.2M780.6 694.2h-1.2" stroke="#999" stroke-width=".7"/><g font-family="Liberation Sans" font-size="4.5" fill="#333"><text x="380.2" y="345.8" text-anchor="end">2600</text><text x="380.2" y="324.7" text-anchor="end">2800</text><text x="380.2" y="303.6" text-anchor="end">3000</text><text x="380.2" y="417.9" text-anchor="end">0</text><text x="380.2" y="401.2" text-anchor="end">100</text><text x="380.2" y="384.4" text-anchor="end">200</text><text x="380.2" y="367.7" text-anchor="end">300</text><text x="380.2" y="482.1" text-anchor="end">0.0</text><text x="380.2" y="463.0" text-anchor="end">0.5</text><text x="380.2" y="444.0" text-anchor="end">1.0</text><text x="380.2" y="424.9" text-anchor="end">1.5</text><text x="380.2" y="548.0" text-anchor="end">-20</text><text x="380.2" y="519.4" text-anchor="end">0</text><text x="380.2" y="490.8" text-anchor="end">20</text><text x="380.2" y="618.2" text-anchor="end">0</text><text x="380.2" y="601.1" text-anchor="end">25</text><text x="380.2" y="584.0" text-anchor="end">50</text><text x="380.2" y="566.9" text-anchor="end">75</text><text x="380.2" y="687.1" text-anchor="end">0.0</text><text x="380.2" y="668.8" text-anchor="end">2.5</text><text x="380.2" y="650.6" text-anchor="end">5.0</text><text x="380.2" y="632.3" text-anchor="end">7.5</text><text x="380.2" y="753.5" text-anchor="end">0.0</text><text x="380.2" y="724.6" text-anchor="end">0.5</text><text x="380.2" y="695.7" text-anchor="end">1.0</text><text x="387.5" y="760.2" text-anchor="middle">2500</text><text x="425.0" y="760.2" text-anchor="middle">3000</text><text x="457.0" y="760.2" text-anchor="middle">0</text><text x="482.0" y="760.2" text-anchor="middle">200</text><text x="507.0" y="760.2" text-anchor="middle">400</text><text x="524.7" y="760.2" text-anchor="middle">0</text><text x="555.0" y="760.2" text-anchor="middle">1</text><text x="591.7" y="760.2" text-anchor="middle">-20</text><text x="614.0" y="760.2" text-anchor="middle">0</text><text x="636.2" y="760.2" text-anchor="middle">20</text><text x="653.2" y="760.2" text-anchor="middle">0</text><text x="683.8" y="760.2" text-anchor="middle">50</text><text x="719.5" y="760.2" text-anchor="middle">0</text><text x="750.0" y="760.2" text-anchor="middle">5</text><text x="794.7" y="760.2" text-anchor="middle">0</text><text x="829.2" y="760.2" text-anchor="middle">1</text><text x="413.9" y="766.4" text-anchor="middle">Depth</text><text x="480.4" y="766.4" text-anchor="middle">GR</text><text x="546.8" y="766.4" text-anchor="middle">ILD_log10</text><text x="613.1" y="766.4" text-anchor="middle">DeltaPHI</text><text x="679.5" y="766.4" text-anchor="middle">PHIND</text><text x="746.0" y="766.4" text-anchor="middle">PE</text><text x="812.4" y="766.4" text-anchor="middle">RELPOS</text><text transform="translate(367.2 318.2) rotate(-90)" text-anchor="middle">Depth</text><text transform="translate(367.2 385.6) rotate(-90)" text-anchor="middle">GR</text><text transform="translate(367.2 453.1) rotate(-90)" text-anchor="middle">ILD_log10</text><text transform="translate(367.2 520.5) rotate(-90)" text-anchor="middle">DeltaPHI</text><text transform="translate(367.2 587.9) rotate(-90)" text-anchor="middle">PHIND</text><text transform="translate(367.2 655.2) rotate(-90)" text-anchor="middle">PE</text><text transform="translate(367.2 722.7) rotate(-90)" text-anchor="middle">RELPOS</text></g><g font-family="Liberation Sans" font-size="5" fill="#333"><text x="851.5" y="510.6" font-size="4.8">Facies</text><circle cx="855.3" cy="515.1" r="1.5" fill="#9e0142" fill-opacity=".8" stroke="#333" stroke-width=".3"/><text x="862" y="516.8">1</text><circle cx="855.3" cy="521.0" r="1.5" fill="#f98e52" fill-opacity=".8" stroke="#333" stroke-width=".3"/><text x="862" y="522.7">3</text><circle cx="855.3" cy="527.0" r="1.5" fill="#fed481" fill-opacity=".8" stroke="#333" stroke-width=".3"/><text x="862" y="528.7">4</text><circle cx="855.3" cy="532.6" r="1.5" fill="#d6ee9b" fill-opacity=".8" stroke="#333" stroke-width=".3"/><text x="862" y="534.3">6</text><circle cx="855.3" cy="538.5" r="1.5" fill="#86cfa5" fill-opacity=".8" stroke="#333" stroke-width=".3"/><text x="862" y="540.2">7</text><circle cx="855.3" cy="544.4" r="1.5" fill="#5e4fa2" fill-opacity=".8" stroke="#333" stroke-width=".3"/><text x="862" y="546.1">9</text></g><marker id="m1" markerUnits="userSpaceOnUse" markerWidth="20" markerHeight="20" refX="10" refY="10" overflow="visible"><circle cx="10" cy="10" r="3.70" fill="#8b003a" fill-opacity="0.72" stroke="#000" stroke-width="1.10" stroke-opacity="0.85"/></marker><marker id="m2" markerUnits="userSpaceOnUse" markerWidth="20" markerHeight="20" refX="10" refY="10" overflow="visible"><circle cx="10" cy="10" r="3.70" fill="#c24142" fill-opacity="0.72" stroke="#000" stroke-width="1.10" stroke-opacity="0.85"/></marker><marker id="m3" markerUnits="userSpaceOnUse" markerWidth="20" markerHeight="20" refX="10" refY="10" overflow="visible"><circle cx="10" cy="10" r="3.70" fill="#db7c48" fill-opacity="0.72" stroke="#000" stroke-width="1.10" stroke-opacity="0.85"/></marker><marker id="m4" markerUnits="userSpaceOnUse" markerWidth="20" markerHeight="20" refX="10" refY="10" overflow="visible"><circle cx="10" cy="10" r="3.70" fill="#dfba71" fill-opacity="0.72" stroke="#000" stroke-width="1.10" stroke-opacity="0.85"/></marker><marker id="m5" markerUnits="userSpaceOnUse" markerWidth="20" markerHeight="20" refX="10" refY="10" overflow="visible"><circle cx="10" cy="10" r="3.70" fill="#e0e0a7" fill-opacity="0.72" stroke="#000" stroke-width="1.10" stroke-opacity="0.85"/></marker><marker id="m6" markerUnits="userSpaceOnUse" markerWidth="20" markerHeight="20" refX="10" refY="10" overflow="visible"><circle cx="10" cy="10" r="3.70" fill="#bcd188" fill-opacity="0.72" stroke="#000" stroke-width="1.10" stroke-opacity="0.85"/></marker><marker id="m7" markerUnits="userSpaceOnUse" markerWidth="20" markerHeight="20" refX="10" refY="10" overflow="visible"><circle cx="10" cy="10" r="3.70" fill="#75b691" fill-opacity="0.72" stroke="#000" stroke-width="1.10" stroke-opacity="0.85"/></marker><marker id="m8" markerUnits="userSpaceOnUse" markerWidth="20" markerHeight="20" refX="10" refY="10" overflow="visible"><circle cx="10" cy="10" r="3.70" fill="#3583a1" fill-opacity="0.72" stroke="#000" stroke-width="1.10" stroke-opacity="0.85"/></marker><marker id="m9" markerUnits="userSpaceOnUse" markerWidth="20" markerHeight="20" refX="10" refY="10" overflow="visible"><circle cx="10" cy="10" r="3.70" fill="#52458e" fill-opacity="0.72" stroke="#000" stroke-width="1.10" stroke-opacity="0.85"/></marker><style>#pp path.p1,#pp path.p2,#pp path.p3,#pp path.p4,#pp path.p5,#pp path.p6,#pp path.p7,#pp path.p8,#pp path.p9{fill:none;stroke:none}.p1{marker:url(#m1)}.p2{marker:url(#m2)}.p3{marker:url(#m3)}.p4{marker:url(#m4)}.p5{marker:url(#m5)}.p6{marker:url(#m6)}.p7{marker:url(#m7)}.p8{marker:url(#m8)}.p9{marker:url(#m9)}</style><clipPath id="kc01"><rect x="897" y="573" width="127" height="127"/></clipPath><g transform="scale(.5)"><g clip-path="url(#kc01)"><path class="p6" d="M923 588l2-1 2 39 0 0-5-17-2 0-2 0 1-1 2 0 5 0 5 0 40 0-42-1-8 0 3 0-3 0-3 0 0-1 5 0 5-5 3-1-1 0 0 0 0 0-2 0-1-1 1 0 0 0 0 0 0 0 0-1-1 0 1 0-7-23-2 0 0 0 0 1-2 0 10 0-6 0 0 0 2 20 0 0 14 30-2 0-8 0 1 0-1-1-2 0-5 0 3 0 3 0 0-1-2 0 5 0-2 0"/><path class="p8" d="M933 583l-1 0 2 0-2 1-7 83-2 0-2 1 1 0-2 0 0 0 2-71-1 0 2 0 0 0 1-1 0 0 0 0 1 0 1 0 0-1"/><path class="p1" d="M934 612l-1 0 1 0-1 0 0-1 0 0 0 0 1 0 1-1-1 0 2 0-1 0 4 19-1 0 0-1-2 0 2 0 0 0 3-1 0 0 0 0-3 36 0 0 0 1-1 0-1 0 1 0 0 0 0 1 0 0 0 0-1 0-1 1 0 0-1 0 0 0 0 0 0 1 1 0-1 0 0 0 1 4-2-22 0 0 1 0-1-1 1 0 0 0 2 9 1 0-5 0 1 25 5-19-1 0 0 0"/><path class="p2" d="M937 646l-1 0 2-33-1-1-4-24-1 0 1 1 0 0 1 0 0 0 0 1 0 0 0 0 4 73 1-1-3 0-1 0 2 0-1 0 2-1 1 0 2 0-2 0 2 0-1-1-1 0 1 0-8-30 0 0 1 0 1 1-1 0-1 0 0 0 8 54-9-82 0 0 0 0 0 1-1 0 0 0 1 0 0 0 0 1 1 0 0 0 0 0 1 0 0 1 1 0-1 0 0 0-1 1 1 0-1 0 4-16 0 0-12 26 2 0 1 0 1 0 4 1 0 0 2 0 0 0 1 0 0 1 2 0-2 0 2 0-3 1-1 0 2 0 2 0-1 0-3 1-1 0 4 4 0 0-3 1 1 0-2 0 0 0-2 1-3 0-2 0 0 0 0 0 1 1 1 0 0 0 1 0-2 0-1 1 0 0 6 21-2-1-2 0 4 0 1 0-2 0 4-1-2 0 0 0 3 0 0 0-3-1-1 0-1 0 0 0 3-1 7-13 3 0 0 0"/><path class="p5" d="M932 612l12 0-7 4 29 0-28-1 0 0 1 0-2 0-3 0 3-1-2 17 0 0 0 0-1-1-2 0 1 0 0 0-1 0 2-1-1 0 0 0 1 0-1 0 0-1-2 0 1 0 27 0-27 0-2-1 1 0 0-26 0 0 2 0 0 1 2 0-4 0 2 0 40 1-39 0-2 0 3 0-1 0 0 1 1 0-1 0 1 0 0 0-17 74 1 0-1 0 2 0-1 1 0 0 6 0 5 0-3 0 1 1 0 0 1 0 2 0"/><path class="p9" d="M922 594l0 1-1 0 1 0"/><path class="p7" d="M931 591l-5 0-1 0 0-1-1 0 0 0"/><path class="p3" d="M931 616l1 1-1 0 1 0 0 0-1 0 1 1 0 0 1 0-1 0-1 1 2-35 0 78-1-1 1 0 0 0 0 0 0 0-1-1 1 0-1 0 0 0 2 0 0-1 0 0 0 0 0 0 0-1-1 0 0 0 0 0 0 0-1-22 0 0 0 0 0 0-1 0 0 1-1 0 0 0 0 0 1 0 0 1 0 0 2 0 0 0-1 1 0 0-1 0-1 0 1 0 0 1-1-9 2-10 0 0 0 0 0 0 0 1-1 0 1 22 0 0 0-1 1 0 0 0 0 0-1-1 0 0 5-23-3-24 0 1 0 0-1 0 0 0 0 0 0 1-1-9 1 1-1 41 1 1 0 0-1 0-1 0 1 0 0 1 1 0 0 0-1 0 0 0 0 1"/><path class="p5" d="M932 617l0 0-3 1 26-26-3 0-1 0-7-1 3 0-2 0 1 0 47 0-55-1-1 0-6 0 7 0 15 0-20-1 1 0-11 0-5 25 6 1-3 0 7 0-4 0 0 0 0 1-2 0 8 0 0 0-3 0"/><path class="p3" d="M931 633l1-14-2 0 1 1-1 0 1 0 1 0-1 0 0 1 0 0 1-29 0 0 3 29 1 0-1 0 3 0 0 0 1-1-4 0 0 0 2 0-4 8 0 0-1 0 3 1 0 0-3 0 3 0 2 0-5 1 1 0 0 0-1 0-1 0 1 1 1 0 4 0 0 0-1 0 0 1-1 0 1-34-1 1-2 10-1 0 1-1 0 0 0 0 0 0-1-1 1 0"/><path class="p8" d="M923 634l0 0-1 1 0 0 1 0 1 0 1 0 0 1 0 0 0 0-1-11-1-1-1 0 1 0 0 0 1 0 0-1 0 0 0 0 0 0 0 0 0-1 0 0 4-2-2 0 1 0-4 0 1 0 0-1-1 0-2 0 1 0 2-1-1 0 3 0-3 0-1-33-3 1 0 0 5 25 1 0 0 0-1-1 0 0 0 0 1 0-1 0 1-1 1 0 0 0 0 0 0-1 0 0 0 0 1 0 0 0 0-1-2 0 1 0 0 48-1 0 0 0-1 1 0 0 0 0 0 0 1 0-2 1 0 0 1 0"/><path class="p9" d="M922 585l0 0 0 0-1 1 0 0 0 0 0 0 0 0 2 4 0 0 0-1 1 0 0 0 0 0 0 0 0-1 0 0 0 0-1 0 0-1 0 0 0 0-2 81 2 0-1 0 1 1-1 0-1 0 0 0 0 0 0 1-1-77 1 0-1 0 1 1 0 0-2 0 1 0 0 0 2 1 1 0 1 0 1 0"/><path class="p6" d="M925 649l-1 0 6 2 1 0 0 1 1 0-3 0-1 0 2 0 1 1-6-50-1 0 0 0 6 0 2 1 12 0 3 0-7 0-2 1-3 0-5-19 3 0 0 0-1 0 22 46-11 0 49 0-40 0-1 0-1-1"/><path class="p1" d="M940 664l-2 0 0-1 4 0-1 0-4 4 2 0 0 1 0 0-6-49 0 0 1 0-1 0 2-1 0 0 1 0 0 0-2 0 0-1 1 0 0 0 0 0"/><path class="p4" d="M938 620l-2 0-2 1 0 0-1 0 1 0 0 0-1 1 1 0 1 0-2 0 2 0 1 1-3 18 0 0 0 1 0 0-1 0-1 0 0 0 2 1-1 0 1 0 0 0 1 0-2 1 0 0-1 0-1 0-2 0 1 1-1 0 1 0 2 7 2 0 0-1-1 0-1 0 3 0 0 0-1-1 2 0 1 0-2 0-1 0 0-1 1 0-1 0 1 0"/><path class="p2" d="M934 626l0 0-1-20 0-1 0 0-1 0 1 0-1 0 0-1 0 0 0 0 0 0 1-1 0 0 7 87-7-87-1 0 0-1-1 0 0 0 1 0 0 0-1 32 13 53-11-53 0 0 0 0 0 1 10 0-1 0-1 1-1 0-1 0 5 0 3 0 2 1-1 0 0 0-3 0 0 1-1 0 0 0 0 0 2 0 0 1-8 44 9-44 0 0 1-29-2 0-3 0-2 0 1 1 0 0 3 0-3 0 0 0-2 1-5 37-3-15 0 0 1-1 0 0-1 0 1 0 0 0 0-1 0 0 0 0 0 0-1-1 1 0 1 0 0 0 0 0 1-1-1 0 4 57-6-57 0 12 0 0 0 0 2-1 0 0-1 0 0 0 1-11-1 0 1-39 1 1-3 0 3 0 6 97-5-96 1 0 0 0-5 12 1 0 0-1 2 0 2 0-3 0-1 0 1-1-4 0 0 0-1 0-2 0"/><path class="p7" d="M924 663h0"/><path class="p6" d="M929 611l1 0 1-1 0 0 0 0 52 0-53 0-2-1 1 0-1 0 1 0 0-1-2-18-2 0 2 1-3 0 11 19-1 0-1 1-2 0-1 15 0 0 1-1 0 0-1 0 0 0 1 0 0-1-2 0 22 0-20 0-6-11 4 0-4 0-2 0-2 0 5 1 7 0 1 0-3 0-10 1-3 0 4 0-4 0 1 0 2 1-1 0 1 0 4 0 5-10-2 0-1 0 0-1 0 0 0 0-1 0 2 0-3-1-1 0 2 0 1 0 0-1-1 0 4 0 0 0 3 0 0-1 0 0 0 0 1 54 2 0-3-1"/><path class="p8" d="M925 595l0 0 0 0-1-1 1 0-1 0 0 0-1 73 0 0 0 1 0 0 1 0 0 0 0 0 0 1 0 0 0 0 0 0-1-41 0 0-1 0 1-9-1 0-1 0 3 0 21 8-22 0-2 0 0-1 0 0 0 0 0 0-1-1 1 0 0 0 1 0 0 0 1-1 1 0"/><path class="p9" d="M925 595l-4 36 0 0 1 0 1 0 0 0 0 1 0 0 1 0-1 0 1 1-1 0-2-45 1 1-1 0"/><path class="p2" d="M934 617l-1 0 1 0 0 0 0 1 0 0 0 0 1 0 0 0-1 1-1 0 0 0 0 0 0 1 1 0-1 0-1 0 1 0 0 1 0 0 0 51 1 0 6 6-5-6-2-65 0 0 1-1 0 0 0 0-1 0-1-1 1 0-1 0 1 0 0 0 0-1 0 0 2 0 0 0 0 0-1-1 0 0 0 0 0 0 0 15 0 0-2-1 1 0 0 0 0-1 0 36 0 0-1 0 0 0 1 1-2 7 0 0 1 0 0-1-1 0 0 0 0 0-1-1-1 0 1 0 1 0-2 0 0-1 0 0 0 0 0 0 0 0 0-1 2-10 0 0 0 1 2 0 1 0 0 0-1 0-1 1 0 0 9 38-10-38 1 1 0 0 0 0 0 0"/><path class="p1" d="M935 629l-1 0 0 0 0 0 0 1 0 0 0 0 0 0 0 0 0 1 0 0 0 0 0 0 0 0 1 1-2 0 1 0 0 0 0 0 1 1 0 36-1 0 0 0 0 0"/><path class="p4" d="M933 649l-2 0 11-43-1 0-3 0 1 0-1-1 0 0-1 0 1 0 0 0-1-1-18 44-2 0 5-1-1 0-4 0"/><path class="p7" d="M922 600l0 0 0 0 1 0 0 0 0-1 2 0-1 0-2 0 1-1 0 0-2 0-1 0-2 0 1-1 3 0-1 0-1 0 3 0-1-1-1 14 4-15-1 0 0 0"/><path class="p5" d="M929 677l2 0 0 0 1 1-1 0 1 0 2 0 2 0 1 1-3-44-2 0 1 13"/><path class="p3" d="M933 588l-2 0 0 0 1-1 0 0 0 0 0 0 1 0 0-1 0 0 0 0 0 0-1 0 1-1 0 0-1 15 0 0-1 0-1 1 0 0 0 0 2 4 1 28 0 0 1 0-1 0 0-1 0 0 0 0 1 0-3-29 1 0-1 0 1 0-1 0 0 1 0 0-1 0 1 0 0 6-2 0 1 0-1 0 2 0 2-1-1 0-3 0-1 0-1-1-1 0 1 0 0 0 0 0 0-1-1 0-2 0 4 0-1 0-2-1-1 19 4 0 0 1 0 0 3 0-1 0 2 0 1 1 0 0-3 0 3 0-1 0 0 1-1 0 0 0-1 0 0 1 0 0 2 0 3 0 0-30 1 0 4-1 0 0-1 0-2 0-1 0 1-1-2 0 1 0 2 0-2 0-1-1 0 0 0 0-2 34 1 0-1 0-1 0-1-1 0 0-1 0 0 0 1 0 1-1-1 0-1 0 1 0 0-1-2 0 1 0 0 0 0 0 1-1"/><path class="p3" d="M931 626l-1 10 0 0 1 0 0 0-1 0 0-1 0 0-1 0 1 0 0-1 0 0-1 0 3 15 0 0 0 0-2 0 9 41-7-76 4 18 0 0-1 0 0-1-1 0 0 0 1 0 0 0-7 11-1 0 3 1-1 0-2 0-1 0 0 1 0 0 2 0 1 0 2 0 5 1 3 0-1 0 1 0 0 0 0 1 2 0-2 0 0 0-2-33-4 0 5 24-1 0"/><path class="p1" d="M938 627l-1 0 0 0-1 0-1 1 1 0 0 0 0 0 0 0 0 1-2 0 1 0 0-4-1 0 5 65 0 0-2 0-5 1 1 0 1 0 3 0 0 0-3 1 2 0 0 0 1 0 3 1-2 0 0 0"/><path class="p5" d="M933 628l1 0 1-1 0 0-1 0 0 0-2 0 0-1"/><path class="p7" d="M924 672l0 0 1 0 0 0 0 0-1-1 0 0-1 0 3-15 0 0 0 0-1 0-1 1 1 0 0 0 0 0 2 0"/><path class="p4" d="M948 633l3-1-1 0-2 0 4 0 5-1-1 0-7 0-5 0-4 0-2-1 4 0 5 0 4 0 1 0-2-1-7 0-5 0-1-21 0 0 1-1-1 0-1 0 0 0 0 58 10 0"/><path class="p8" d="M926 659l-1-1 0 0 1 0 0 0-1 0 0-1 0 0-1-40 0 0 0 0 1 0-1 0 1-1-1 0-1 0 0 0 0-1 3-27 2 0-2 0 0 0-6 42-3-1 66 0-35 0-27 0 2 0 1-1 4 0 25 0-25 0-3 0 0-1 0 0-1 0-1 0-1-1-1 0-1 0 0 0 0 0 2-17 1 0-2-1 0 0 0 0-2 0 3 0 5-1 1 0-2 0 1 0-1 0-1-1-1 0-2 0-2 19 0 0 1 0 0 0 1 0 0 1 0 0 0 0 22 13-23 0 0-1-1 0-2 0 28 0-28-1 0 0-1 0 1 0 1 0 2-52 3 0 12 46 51 0-55-1-1 0-6 0-1 0-1 0-1-1 0 0-1 0 1 0 3-15 0 0-1 0 1 1 0 0 0 0-1 0 1 0 0 1 0 0 0 0-1 0 1 1 0 0 0 0 0 0 1 0 0 1 21 0-22 0-1 3 0 0 1 0 0 0-1 1-1 0 1 0 0 0"/><path class="p2" d="M932 621l1 0 0 0 1 1 1 0-1 0 1 0 0 1-2-15 0 0-2 0 3 0 0 0-1-1 1 0-1 0 1 0 0-1-1 0 1 0 1 0-1 0-1-1 0 0 1 33 0 0-3-30 0 10 1 0 1 0 11 61-12-60 1 0-1 0 1 0 0 1 3-13 1 1 9 38 0 0-2 0 1 0-6 1-2 0 1 0-3 0 0 0-2 1-1-14-1 0 1 0 0 1 2 0 1 0 0 1-2 0 1 1 0 0 0 0-2 0-2 1"/><path class="p6" d="M928 623l-1 0 1 0 0-1-1 0 3 0 0 0 2 0-1-1 1 0 1 0 0 0-8 5-8 0 1 0 9 39-2 1 2 0 0 0 2 0 2 1-1 0-1 0-1 0-1 0 0 1 0 0 3 0-1 0 1 0-2 1-1 0 0 0 1 0 0 0-2-81-4-1-5 0 3 0 1 0-2 0 1-1 7 19-1 0-2 0 37-6-37 0-4 0 0 37 4 0 3 0-3 0-3 0-1 1 3 0 10-18-1 0-1-10-2 0 1 0-1 0 0 0-1-1 3 0 0 0 9 33 3 0-2 0 5 0-1 1 2 0-3 0 1 0 5 0-2 1-12 7"/><path class="p9" d="M919 639l-1 0 0 0 7 17 0 1 0 0 1 0 3 0-2 0-9-63 2 1-2 0 0 0 2 0 1 0-1 1 0 0-1 0 1 0"/></g></g><clipPath id="kc02"><rect x="1030" y="573" width="127" height="127"/></clipPath><g transform="scale(.5)"><g clip-path="url(#kc02)"><path class="p1" d="M1069 612l0 0-2 0 2 0 2-1 2 0-2 0-1 0 3-1 0 0 2 0-1 0 11 19 5 0-1-1-4 0-2 0-8 0-4-1 0 0 9 0-15 36 1 0-4 1-1 0 2 0-1 0 1 0 0 1-2 0 0 0 1 0 3 1 2 0-1 0-2 0 0 0 1 1 1 0 0 0 0 0 1 4 0-22 1 0 2 0-1-1 0 0 0 0-12 9 4 0-12 0 34 25-11-19 0 0-3 0"/><path class="p3" d="M1084 616l0 1 2 0-2 0 2 0 0 0-1 1-2 0 2 0-2 0 1 1 11-35-17 78-2-1 3 0 0 0 1 0-1 0-2-1 0 0 2 0 0 0 1 0-1-1 1 0 2 0 2 0 3-1-2 0 0 0-1 0 1 0 1-22-3 0 0 0 0 0 1 0-2 1 2 0-2 0 1 0 3 0-2 1-1 0-1 0-1 0 1 1 0 0-1 0-2 0 0 0-1 1 1-9 5-10 1 0 0 0 1 0-3 1 0 0 8 22 0 0 0-1-2 0-4 0 2 0 1-1-1 0-19-23 29-24 0 1-1 0-1 0-1 0-3 0 3 1-6-9 3 1-4 41 2 1 1 0 2 0 0 0-2 0 2 1 1 0-1 0-1 0 0 0 1 1"/><path class="p6" d="M1119 588l6-1-20 39-5 0-4-17-4 0-2 0 3-1-6 0 14 0-7 0 3 0-4-1-8 0 0 0 9 0 11 0 5-1-10 0 0-5 3-1 6 0 0 0 2 0 2 0 2-1-2 0 0 0 0 0 0 0-2-1 1 0 1 0 10-23 1 0-1 0 12 1-3 0-2 0 1 0 1 0-3 20 1 0-20 30-1 0 0 0 3 0 10-1-4 0-6 0-2 0 8 0-3-1-8 0 2 0 12 0"/><path class="p7" d="M1121 591l-12 0 2 0 0-1-3 0 2 0"/><path class="p9" d="M1079 594l14 1-19 0-1 0"/><path class="p2" d="M1090 646l-2 0-25-33 3-1 16-24-1 0-1 1 1 0 2 0-3 0-2 1 1 0 0 0-11 73-5-1 8 0-12 0-1 0 5 0-1-1 9 0 2 0 0 0-3 0-5-1-8 0 4 0 16-30 3 0-2 0-1 1 3 0 2 0 2 0 1 54-3-82 0 0-1 0-3 1 0 0-1 0 0 0 0 0 2 1-2 0 1 0-1 0 0 0-3 1 1 0 0 0 1 0-1 1-2 0-1 0-1-16-2 0 20 26-11 0-1 0-7 0 1 1 10 0 0 0-2 0 5 0 3 1-11 0-8 0 10 0 0 1 3 0 3 0-4 0-7 0-2 1-2 0-1 4-1 0 6 1 8 0 1 0 1 0 0 1 0 0 3 0 0 0 1 0-5 1-1 0 3 0 5 0 0 0-6 1-3 0 12 21 9-1-6 0-1 0-1 0-2 0 1-1-4 0 3 0 0 0 0 0 3-1-3 0 5 0 0 0-2-1-7-13 0 0-3 0"/><path class="p8" d="M1117 583l3 0-13 0-2 1-2 83-3 0 19 1-13 0-4 0-16 0 13-71 3 0 1 0-1 0-4-1-6 0-3 0 2 0 1 0 1-1"/><path class="p5" d="M1100 612l-12 0 8 4-11 0 18-1 4 0-7 0 4 0-11 0 2-1 14 17 2 0 2 0-1-1-2 0-3 0-4 0 0 0-1-1 0 0 3 0 0 0-4 0 5-1 1 0-1 0-9 0 10 0-2-1-1 0-2-26-1 0 0 0-2 1 0 0 3 0 1 0-16 1 15 0-2 0 2 0 0 0 2 1 2 0 2 0 2 0-3 0 23 74-2 0-3 0-7 0 1 1 10 0 10 0-6 0 5 0-5 1-3 0-8 0 6 0"/><path class="p1" d="M1090 664l-6 0 7-1 6 0 2 0-32 4-1 0-1 1 2 0-3-49 0 0 0 0-1 0 0-1 1 0 0 0-1 0-1 0 0-1 0 0 4 0 1 0"/><path class="p2" d="M1083 626l1 0-3-20 0-1 3 0-2 0 1 0-1 0 2-1-1 0 0 0 2 0 2-1-1 0 0 87-4-87 1 0 0-1 1 0-1 0-2 0 4 0 1 32 2 53 0-53-4 0 0 0 0 1 25 0 3 0-11 1-6 0 7 0 8 0-10 0 1 1-3 0-9 0 11 0-3 1-5 0 3 0-10 0-6 0-1 1 3 44 1-44 6 0 0-29 1 0 0 0-5 0-5 1-1 0 4 0 9 0-1 0-5 1-18 37 10-15 2 0 1-1 0 0 1 0 0 0 0 0 3-1 0 0 0 0-1 0 4-1 2 0-2 0-2 0 0 0 0-1-1 0-3 57 0-57-3 12 2 0 0 0 0-1 3 0-1 0 3 0-1-11-3 0 3-39-4 1 3 0 0 0 4 97 5-96 7 0-5 0-10 12-4 0-4-1-4 0 9 0 6 0-4 0-6-1-1 0-9 0 8 0 4 0"/><path class="p5" d="M1114 617l2 0-1 1 9-26 0 0 0 0 3-1-3 0-8 0-8 0-24 0 24-1-1 0 2 0-3 0-10 0 4-1 4 0 3 0-4 25 7 1-1 0 5 0 8 0-6 0 0 1-11 0-1 0-4 0 1 0"/><path class="p4" d="M1093 620l-3 0-3 1 2 0 2 0 3 0-2 0 0 1-1 0-1 0 3 0 1 0 1 1-2 18-1 0 5 1 3 0-1 0 1 0 0 0-5 1-3 0 2 0 2 0-4 0-2 1-1 0 0 0 1 0 3 0-1 1 1 0-2 0 4 7-1 0 2-1 1 0 1 0 1 0 2 0 1-1 2 0 0 0 0 0-1 0-1-1 0 0-1 0-2 0"/><path class="p7" d="M1098 663h0"/><path class="p6" d="M1124 649l-2 0-6 2 1 0 3 1-1 0-2 0 1 0-2 0 2 1 13-50 3 0 1 0-4 0 5 1-3 0-5 0 4 0-10 1 6 0-7-19-3 0 1 0-1 0 9 46-6 0-19 0 15 0 2 0 9-1"/><path class="p3" d="M1093 633l-9-14 2 0-1 1 3 0-2 0 1 0-1 0-4 1 1 0 18-29 11 0 2 29 2 0-4 0-6 0 5 0 1-1 5 0-6 0 1 0-32 8-5 0-2 0-2 1 2 0-1 0-2 0 3 0 6 1 8 0-7 0 4 0 3 0 3 1-3 0 1 0 8 0-6 0-4 1 4 0 0-34-3 1-4 10 1 0 1-1 0 0 0 0 0 0 3-1-1 0"/><path class="p8" d="M1099 634l5 0 1 1 5 0-1 0-7 0-4 0-1 1 0 0-1 0-3-11-2-1 2 0 4 0-1 0-7 0 4-1-2 0-2 0 5 0 0 0 0-1 1 0-7-2 14 0 11 0 1 0-18 0 1-1 9 0 4 0 14 0-2-1-7 0-3 0-5 0-1-33 1 1-22 0 17 25-1 0 0 0 3-1-2 0-3 0 0 0-3 0-1-1-1 0 3 0 1 0-4-1-2 0-2 0 0 0-3 0 4-1 2 0 4 0 2 48 6 0-1 0-1 1 1 0 3 0-2 0-4 0 1 1-6 0-1 0"/><path class="p9" d="M1096 585l-1 0-1 0-1 1-1 0 0 0 6 0 0 0-17 4-3 0-3-1-1 0 2 0 1 0-7 0 4-1-2 0 1 0 3 0 1-1 1 0-3 0-25 81 9 0-2 0 0 1 6 0 3 0-4 0-3 0 2 1 8-77-3 0-1 0 10 1 9 0-25 0 6 0 10 0-5 1-2 0 6 0 22 0"/><path class="p1" d="M1066 629l1 0 0 0-1 0 2 1-1 0 3 0 1 0-2 0-1 1 0 0-2 0 0 0-1 0-1 1 4 0-4 0-2 0-1 0-2 1 1 36 1 0 3 0 1 0"/><path class="p6" d="M1124 611l-1 0 0-1-2 0-3 0-34 0 31 0 0-1-2 0 2 0-1 0 1-1 4-18-2 0 2 1 0 0-9 19-4 0 0 1-2 0-3 15 0 0 0-1-4 0 0 0-2 0 5 0 2-1 3 0-19 0 18 0 9-11-5 0-3 0-2 0-4 0 0 1 4 0 2 0 1 0 0 1-8 0-4 0-7 0 10 0-1 1-3 0 7 0-2 0 10-10 0 0-2 0 0-1-2 0 2 0 0 0 4 0-2-1-1 0-3 0-2 0 3-1 2 0-5 0 3 0-1 0 0-1 5 0-2 0-1 54-5 0 5-1"/><path class="p5" d="M1102 677l-2 0 1 0 2 1-5 0 2 0-3 0-1 0 2 1 0-44 1 0-5 13"/><path class="p2" d="M1080 617l1 0 0 0-1 0-1 1 1 0-1 0 3 0 1 0 0 1 0 0 3 0 0 0 0 1-2 0 1 0-1 0-3 0 1 1-1 0 0 51 0 0-1 6 1-6-1-65 0 0 0-1 1 0-2 0 0 0 2-1 0 0 3 0 1 0-1 0-2-1 0 0 3 0-1 0-2 0 1-1-1 0-4 0 2 0-1 15-2 0 8-1-1 0 1 0-2-1-4 36 1 0 1 0 0 0 2 1-5 7 2 0-2 0-2-1 0 0 0 0 3 0-2-1 0 0 0 0 0 0 3 0 1-1 1 0-2 0 0 0 1 0 0-1 0-10 0 0 1 1 0 0 2 0-1 0 3 0 3 1-3 0-1 38 0-38-4 1 1 0-1 0-1 0"/><path class="p3" d="M1086 588l2 0 0 0-1-1-1 0 1 0 2 0 0 0 1-1 0 0-1 0-3 0 0 0 2-1 0 0-4 15 2 0 1 0-1 1 1 0 1 0-2 4-3 28 1 0 0 0 2 0-1-1-2 0 0 0 0 0-2-29 1 0-1 0 2 0 3 0 0 1 0 0 0 0-1 0-5 6-1 0 6 0 1 0 5 0-5-1 1 0 6 0-3 0-6-1 0 0 4 0-5 0 5 0-8-1 7 0 1 0-7 0 4 0-2-1 5 19-4 0-5 1-2 0-4 0 2 0 7 0-6 1 12 0-3 0-1 0 0 0-3 1-3 0 3 0-7 0-2 1 5 0 1 0 0 0-7-30-5 0 9-1-5 0-9 0-5 0 1 0-4-1-1 0 2 0 11 0 8 0-1-1-1 0-6 0 27 34-1 0 0 0 0 0-1-1 2 0 0 0-2 0 1 0 0-1-1 0 1 0 1 0-2-1 4 0 2 0-3 0-2 0-2-1"/><path class="p8" d="M1111 595l-2 0 1 0-2-1 3 0 1 0 3 0-18 73-1 0-1 1 0 0 4 0-3 0 0 0 1 1-5 0 0 0 3 0 8-41-5 0-1 0-1-9-2 0-2 0 5 0 8 8-4 0 3 0-4-1 3 0 1 0 0 0 3-1-3 0 5 0 3 0-4 0 4-1-2 0"/><path class="p7" d="M1084 600l11 0 2 0 2 0 4 0-6-1 10 0-10 0 7 0 9-1 0 0 5 0 10 0-11 0-7-1-1 0 3 0-8 0-4 0-13-1 8 14 11-15-2 0-2 0"/><path class="p4" d="M1099 649l-1 0-5-43 1 0 0 0 2 0-1-1-1 0-1 0 1 0-1 0 3-1 5 44-7 0 2-1-6 0 7 0"/><path class="p9" d="M1099 595l-23 36 1 0 4 0 8 0-5 0-1 1 1 0-7 0-2 0 3 1-4 0 12-45-8 1 7 0"/><path class="p8" d="M1109 659l-2-1 0 0 0 0 3 0 1 0 2-1-5 0-16-40 4 0-5 0 2 0 3 0-3-1 1 0-3 0 1 0-5-1-24-27 10 0 11 0-11 0 39 42 9-1-18 0-12 0 34 0 11 0-11-1-7 0-23 0 17 0-2 0 6-1 7 0-13 0-26 0 1-1 4 0 7 0-4 0 8 0 1-17-11 0-6-1 0 0 10 0-15 0 13 0 12-1 4 0-10 0 1 0-17 0-5-1 5 0 7 0 8 19 1 0-2 0 2 0 0 0 0 1 0 0-1 0 5 13-8 0-6-1 15 0 4 0-3 0-13-1 3 0-5 0 0 0 5 0 3-52 4 0 4 46-17 0 16-1 0 0 0 0-3 0 4 0-5-1-5 0-3 0 2 0 9-15 1 0-7 0-4 1-4 0-6 0 2 0 1 0 0 1 2 0 0 0 2 0-1 1 3 0 2 0 1 0 2 0-7 1 0 0-1 0 2 3-1 0 0 0 0 0 1 1-1 0 0 0 7 0"/><path class="p5" d="M1100 628l0 0 6-1 1 0 3 0 1 0 0 0-2-1"/><path class="p1" d="M1070 627l0 0 2 0-1 0-1 1-1 0-2 0-1 0 1 0 0 1-2 0 1 0-1-4 0 0 4 65-2 0 2 0-6 1 4 0 2 0-1 0-3 0 0 1 0 0-3 0-6 0-3 1 8 0-2 0"/><path class="p3" d="M1089 626l4 10-1 0 0 0 1 0 1 0 0-1-2 0 0 0-2 0-17-1 1 0 2 0 9 15 0 0 0 0-10 0 8 41-3-76 11 18-1 0-1 0 1-1-1 0-2 0 0 0-2 0-9 11-3 0 6 1 3 0 10 0-5 0 0 1 3 0 2 0-6 0 0 0 0 1 0 0 5 0-5 0 2 0-7 1 2 0-3 0 1 0 5-33-7 0-6 24 4 0"/><path class="p2" d="M1078 621l0 0 1 0-1 1-2 0 0 0 3 0 1 1-7-15 2 0 0 0 0 0-1 0-1-1-1 0 2 0 0 0-2-1-1 0 1 0 0 0 2 0 4-1 0 0 2 33 1 0-2-30 3 10 1 0-2 0-1 61 1-60-2 0 3 0-2 0 0 1 4-13 2 1-10 38-1 0-2 0 0 0-3 1 8 0-4 0-9 0 9 0 0 1 7-14-10 0 3 0 4 1 2 0-1 0 4 1 0 0-2 1 8 0 3 0 10 0 7 1"/><path class="p6" d="M1118 623l1 0 0 0 1-1 2 0 0 0 1 0-1 0-4-1-1 0 1 0 0 0-32 5-13 0-4 0 47 39-3 1 0 0-3 0 0 0 1 1 1 0 1 0-3 0 3 0 1 1 2 0 1 0 0 0 0 0 0 1-1 0 1 0-1 0-1 0 18-81 3-1-12 0-7 0-2 0 2 0-1-1-6 19 3 0 2 0-9-6-2 0 5 0-37 37-7 0 5 0 0 0 4 0-1 1 9 0 25-18-1 0-7-10 4 0 3 0 2 0 3 0 2-1 5 0-4 0-3 33 3 0-9 0 3 0 14 1-7 0-1 0-2 0 8 0-5 1-1 7"/><path class="p7" d="M1105 672l0 0-1 0 4 0 0 0-1-1 0 0 2 0-6-15 1 0 0 0 2 0 2 1 2 0-3 0 1 0-3 0"/><path class="p9" d="M1081 639l3 0-4 0-27 17 2 1 0 0-2 0 27 0 9 0-29-63-7 1 13 0 10 0-7 0 9 0 7 1-9 0-3 0-6 0"/><path class="p4" d="M1099 633l-7-1 0 0 2 0 2 0 4-1-7 0 10 0-10 0 2 0 10-1-5 0-1 0 0 0-6 0-7-1 0 0-7 0 13-21 0 0 2-1 2 0 0 0-2 0-13 58-2 0"/></g></g><clipPath id="kc03"><rect x="1163" y="573" width="127" height="127"/></clipPath><g transform="scale(.5)"><g clip-path="url(#kc03)"><path class="p8" d="M1234 583l-3 0 1 0 4 1-7 83 2 0 4 1-5 0-1 0 8 0-4-71-2 0 1 0 2 0 0-1-1 0 0 0 0 0 3 0 0-1"/><path class="p5" d="M1239 612l-4 0 21 4-19 0 12-1-2 0-2 0 1 0-3 0-5-1 3 17-2 0-1 0 0-1-1 0 0 0-2 0 0 0 1-1 1 0 1 0 2 0-3 0 2-1 2 0 0 0-5 0 3 0 0-1 1 0 1-26 0 0-1 0-1 1-1 0 2 0 0 0 2 1-2 0 0 0 0 0-2 0-2 1-3 0 0 0 2 0-2 0 4 74 3 0-5 0-13 0 0 1-1 0 0 0 0 0 5 0 2 1-10 0 2 0 3 0"/><path class="p1" d="M1250 612l2 0-2 0 0 0 0-1 0 0 0 0-1 0-2-1-1 0 0 0 2 0-12 19-2 0-6-1 9 0 1 0-2 0 2-1 0 0 5 0 10 36-2 0-1 1 1 0-1 0 2 0 2 0-1 1-2 0-2 0 0 0 1 1-2 0 3 0-1 0 1 0-2 1 4 0 1 0-1 0-1 4-2-22 0 0 0 0 2-1 0 0 3 0-5 9 10 0-4 0-17 25 5-19-2 0 2 0"/><path class="p7" d="M1236 591l1 0-2 0 2-1-1 0 0 0"/><path class="p9" d="M1231 594l-1 1-2 0-2 0"/><path class="p6" d="M1235 588l1-1 7 39-5 0 11-17-6 0 2 0 4-1-3 0-3 0 6 0-14 0 12-1 3 0 1 0 2 0 9 0-4-1-6 0-13-5 1-1 0 0-1 0 3 0-1 0-2-1 1 0 0 0 1 0 1 0-2-1-3 0-1 0-10-23-5 0 1 0-1 1 1 0-1 0-5 0 1 0 10 20 0 0-4 30 4 0-2 0 2 0-1-1 2 0 1 0-2 0 8 0-3-1 3 0-1 0 7 0"/><path class="p3" d="M1245 616l0 1 0 0 6 0-3 0 3 0-4 1 4 0-4 0-3 0-3 1 8-35-15 78-1-1-3 0-5 0-2 0 8 0 0-1 1 0 1 0 0 0-1 0 6-1-3 0-1 0-2 0 4-1 2 0 0 0 3 0 1 0 2-22-6 0-1 0 1 0-5 0 1 1 0 0-3 0-2 0-3 0 1 1 2 0 1 0 3 0-1 1 0 0 1 0 3 0 4 0 1 1 2-9 7-10-2 0-3 0-3 0 0 1 2 0-10 22 3 0 1-1 3 0-2 0-6 0-1-1 1 0 27-23-22-24-2 1 2 0-3 0-1 0 2 0 3 1-24-9 2 1 16 41 4 1-2 0 1 0 4 0 1 0-2 1 2 0-1 0 3 0 2 0-1 1"/><path class="p2" d="M1237 646l2 0 10-33-8-1 5-24-2 0-2 1 1 0 4 0 0 0 0 1 0 0-3 0 4 73 3-1-5 0 0 0-1 0 12 0-2-1 10 0 0 0 4 0-8 0-3-1-10 0 7 0-4-30-4 0 0 0 2 1 0 0-2 0 0 0-58 54 64-82-4 0 0 0 2 1 2 0-1 0 3 0 0 0-2 1-1 0 0 0-1 0 0 0 2 1 1 0-1 0 1 0 0 1 2 0-2 0-25-16-1 0-3 26 1 0-12 0 0 0 5 1 5 0-1 0-2 0 4 0-3 1 3 0-6 0-1 0 9 1 13 0 4 0-2 0 1 0 0 1-14 0 9 4-1 0-2 1-3 0-12 0 3 0 5 1 8 0 9 0 2 0-5 0 1 1 10 0 10 0 5 0-10 0-5 1-1 0-8 21 4-1 3 0-13 0 0 0 1 0-3-1 2 0 4 0-2 0-1 0 13-1-9 0-9 0-4 0-8-1-3-13-2 0-4 0"/><path class="p1" d="M1250 664l4 0 4-1 6 0-9 0-3 4-1 0 2 1-1 0-4-49-1 0-1 0 0 0 0-1 1 0 1 0 0 0 0 0 0-1 1 0-1 0 0 0"/><path class="p6" d="M1241 649l-1 0-3 2 0 0 2 1 0 0-1 0 2 0-1 0-3 1 26-50-6 0-1 0 4 0-7 1 4 0 8 0 4 0-4 1 4 0-31-19 2 0 0 0 1 0-12 46 3 0 6 0 2 0-6 0 1-1"/><path class="p5" d="M1240 617l-1 0-1 1-8-26 6 0 6 0-10-1-5 0-2 0 4 0 6 0 3-1 7 0 1 0 5 0-16 0 10-1 8 0-1 0-17 25-2 1 2 0 0 0-1 0 2 0-11 1 3 0 8 0 0 0-1 0"/><path class="p7" d="M1242 663h0"/><path class="p4" d="M1227 620l-3 0 3 1 7 0 0 0 4 0-25 0 22 1-4 0 3 0 0 0 1 0-8 1 1 18-6 0-2 1-5 0 3 0-4 0-6 0-8 1 6 0 5 0 7 0 0 0 0 1 1 0 1 0 5 0-1 0 0 1-3 0 1 0-5 7 1 0-1-1 1 0 6 0 2 0 1 0-4-1-4 0 7 0-4 0-3 0 2-1 0 0-7 0 0 0"/><path class="p9" d="M1229 585l1 0 0 0 0 1 1 0 0 0 0 0 0 0 1 4 0 0-1-1 0 0 1 0 0 0-1 0-1-1 0 0 0 0 1 0 1-1-1 0 0 0 8 81-2 0 0 0-2 1 1 0 0 0-1 0-1 0 0 1-2-77 1 0-2 0-2 1 1 0-1 0 2 0 0 0 2 1 0 0-2 0 1 0"/><path class="p2" d="M1245 626l2 0 2-20-2-1 3 0 0 0 0 0-6 0-2-1-4 0 4 0 0 0 3-1-1 0-38 87 39-87-2 0 0-1 0 0 2 0-1 0 2 0-1 32-58 53 59-53-1 0 0 0-2 1-6 0-5 0 13 1-4 0 11 0 4 0 0 0-4 1 4 0-5 0-12 0-9 1 10 0-3 0 2 0 8 0-4 1-56 44 62-44 5 0-3-29-1 0 1 0 3 0-10 1 3 0 5 0-5 0 6 0 4 1-27 37 5-15 2 0 0-1 0 0-1 0-1 0 2 0 0-1-1 0 1 0-1 0 1-1-1 0 2 0 2 0 2 0 3-1 0 0-38 57 34-57 2 12-1 0 0 0-2-1 0 0 5 0 1 0 9-11 2 0-9-39 5 1-7 0 1 0-53 97 52-96 8 0-3 0 15 12 3 0-1-1-5 0-5 0-7 0 3 0 10-1-5 0-9 0-3 0 3 0"/><path class="p8" d="M1237 634l0 0-2 1-2 0 1 0-1 0-3 0 3 1 2 0-3 0 3-11 0-1-1 0 2 0-1 0-2 0-1-1 0 0-1 0-1 0 0 0 2-1 1 0-12-2-3 0-3 0-3 0-1 0 2-1 3 0 4 0 5 0 2-1 1 0-1 0 0 0 7-33 3 1 7 0-9 25 2 0-1 0 2-1-2 0-2 0-1 0 0 0 1-1 0 0 0 0-1 0 0-1-1 0 2 0-1 0 0 0-3-1 0 0-1 0 0 48 3 0-2 0 0 1 3 0 0 0-3 0-2 0 1 1-2 0 0 0"/><path class="p3" d="M1246 633l0-14 6 0 6 1-3 0-4 0-1 0 2 0-1 1 1 0-8-29-6 0 3 29-11 0 13 0 23 0 2 0 2-1-3 0-11 0-7 0-14 8 0 0 10 0-7 1-14 0 16 0 5 0-11 0-25 1 26 0-8 0 2 0-31 0 29 1-10 0 4 0-11 0-18 0 35 1-7 0-12-34 15 1 19 10 1 0-6-1-50 0 50 0 2 0 3-1 1 0"/><path class="p1" d="M1254 629l-1 0 1 0 1 0 2 1-2 0-1 0-1 0-1 0-1 1-1 0 1 0 2 0-1 0 4 1-3 0-1 0 0 0 0 0 1 1-1 36 0 0 1 0-1 0"/><path class="p4" d="M1223 649l1 0 5-43-1 0 5 0-1 0-4-1 0 0 5 0 0 0 0 0-5-1-31 44-7 0 11-1-9 0 1 0"/><path class="p2" d="M1245 617l-1 0-4 0 2 0 1 1 2 0 1 0-2 0 1 0 1 1 0 0 6 0 0 0-3 1-2 0 2 0-2 0-3 0-1 1 0 0-1 51-2 0-38 6 36-6 3-65-2 0 1-1-3 0 0 0 0 0 1-1 3 0-3 0-2 0 1 0 2-1 0 0 0 0 0 0 0 0 1-1 2 0 2 0 3 0 1 15 3 0-5-1 2 0-1 0 4-1-7 36 1 0 0 0-1 0 2 1 4 7 1 0 1 0-1-1-3 0-2 0-1 0 2-1-3 0-1 0-4 0 2 0-1-1 0 0 2 0 1 0 2 0 0-1-4-10 3 0 1 1 0 0 1 0-3 0 1 0-3 1-3 0-30 38 33-38 0 1-1 0-2 0-2 0"/><path class="p5" d="M1239 677l0 0 1 0 1 1-1 0 0 0-2 0 0 0-1 1-2-44 1 0 2 13"/><path class="p3" d="M1238 588l3 0-4 0 4-1 1 0-2 0-2 0 2 0-3-1 7 0 1 0 2 0 1 0 0-1-1 0-11 15-3 0 0 0 5 1-1 0 1 0 5 4 7 28 1 0-2 0 0 0-5-1 0 0-3 0-35 0 37-29-4 0-1 0 1 0 1 0 0 1 1 0 2 0-3 0-55 6 77 0-11 0 14 0 4 0 2-1-9 0 4 0 1 0-4-1-69 0 70 0 6 0-10 0-4-1-2 0 1 0-1 0 2 0-6-1 8 19-12 0 6 1 3 0 5 0-4 0 6 0-3 1 1 0-11 0 8 0 6 0 2 1 5 0-5 0-5 0-2 1 7 0-6 0 4 0-12-30 2 0 7-1 2 0 7 0 0 0-68 0 61-1-4 0 5 0-3 0-62 0 45-1-6 0 8 0-3 34-53 0 43 0 3 0 3-1 1 0-1 0-5 0 1 0-2-1-1 0-1 0-3 0 5-1 4 0-3 0 0 0-3 0-5-1"/><path class="p8" d="M1235 595l-1 0 2 0-1-1 0 0-1 0 1 0 0 73 0 0-1 1 1 0 0 0 2 0 0 0 0 1 0 0-2 0-2 0-5-41 4 0 0 0 4-9 0 0 0 0-5 0 2 8-5 0 0 0 1-1 3 0-2 0-1 0 1-1 0 0 0 0 1 0-1 0 0-1 1 0"/><path class="p7" d="M1240 600l-2 0 0 0-2 0-2 0-1-1 5 0 1 0-1 0 1-1-5 0 0 0 3 0 2 0 2-1-3 0 0 0-3 0 2 0 1-1 1 14-9-15 1 0 0 0"/><path class="p9" d="M1232 595l-2 36-1 0-1 0 1 0 0 0-1 1 1 0 0 0 0 0 0 1 1 0 3-45-1 1 0 0"/><path class="p6" d="M1239 611l0 0 1-1-1 0-2 0 2 0-4 0 0-1 0 0 2 0 0 0 2-1-5-18-3 0 0 1 1 0 6 19-3 0-1 1 1 0 0 15-2 0-2-1 0 0 0 0 0 0 1 0 0-1 3 0 5 0-3 0 13-11-3 0-7 0-5 0 1 0 1 1 2 0 1 0 6 0 0 1-1 0 3 0 1 0-6 0 5 1 2 0-1 0-2 0-7-10 1 0-1 0 0-1-2 0 0 0 1 0 0 0 1-1-1 0-2 0 0 0 1-1 1 0-3 0-1 0-1 0 0-1 1 0 2 0-1 54 0 0 0-1"/><path class="p7" d="M1232 672l-1 0 1 0 0 0 0 0 0-1 1 0-1 0 5-15-1 0-1 0 1 0 1 1 0 0 0 0 1 0 1 0"/><path class="p3" d="M1224 626l3 10-1 0 2 0-2 0 2 0-2-1 4 0 5 0-5 0 29-1 1 0-6 0-4 15-4 0 2 0 4 0-55 41 46-76-10 18 2 0 6 0-2-1 0 0 0 0-2 0 1 0 25 11 3 0 0 1-3 0-7 0-4 0-13 1 4 0 13 0 8 0 0 0 0 1-26 0-1 0-7 0 13 0-1 1-2 0-6 0-7 0-5-33 8 0-46 24 18 0"/><path class="p2" d="M1248 621l1 0-3 0 0 1 0 0 3 0-1 0 0 1 0-15 0 0 1 0 3 0 2 0-1-1-5 0-1 0 1 0-1-1-4 0-2 0 1 0 0 0 3-1 2 0 0 33 1 0 1-30-10 10-2 0 2 0-40 61 37-60 2 0-1 0 0 0 2 1 1-13 1 1 9 38 11 0-3 0 5 0-9 1-1 0-1 0 6 0 6 0 0 1-34-14-3 0-6 0 2 1-6 0-9 0 43 1-7 0 5 1 10 0 5 0 1 0-6 1"/><path class="p1" d="M1251 627l1 0-2 0-2 0 0 1 0 0-2 0 2 0 0 0 2 1 0 0 1 0-2-4 2 0-26 65 6 0 5 0 7 1 0 0-1 0 6 0-7 0 5 1 2 0 3 0-1 0-1 1 1 0 4 0"/><path class="p4" d="M1229 633l6-1-1 0 3 0 3 0-16-1-6 0 29 0 8 0-1 0 2-1 12 0-7 0 1 0 5 0 2-1-18 0-12 0-15-21 4 0-2-1-6 0 2 0-5 0-22 58 7 0"/><path class="p6" d="M1233 623l2 0 1 0 0-1-3 0 2 0 3 0 1 0 0-1 2 0-2 0 1 0 19 5-4 0 3 0-24 39 0 1-1 0-1 0-2 0 2 1 1 0 1 0 1 0-1 0-1 1-2 0 1 0 1 0 2 0 1 1 1 0 1 0-2 0-1 0-9-81 2-1 4 0 3 0-5 0 10 0-1-1-7 19 0 0 1 0 8-6-13 0-3 0 9 37 3 0-5 0-6 0 5 0 4 1-2 0-2-18-2 0 7-10 0 0-2 0 1 0 0 0 0-1-1 0 2 0-12 33 0 0-2 0 1 0 4 1 6 0-2 0 1 0 9 0-1 1-4 7"/><path class="p9" d="M1228 639l-1 0 2 0-1 17 1 1-1 0 0 0-2 0 1 0 7-63-4 1 1 0 2 0 0 0-1 0-4 1-1 0 4 0 0 0"/><path class="p5" d="M1238 628l0 0 1-1 2 0 0 0-3 0-1 0 1-1"/><path class="p8" d="M1237 659l-1-1-1 0 2 0 0 0 1 0-1-1 0 0-5-40 0 0 1 0 0 0-1 0 2-1 0 0-1 0 1 0-1-1-13-27-2 0 0 0-1 0 19 42 7-1-4 0-6 0 18 0-5 0 2-1-5 0-2 0 11 0-1 0-2-1 2 0-1 0 2 0-1-1 0 0-8 0 4 0-5 0 8-17 2 0-6-1-1 0 8 0-2 0 0 0-5-1 7 0-9 0 5 0 1 0 2-1-8 0-6 0 0 19-2 0 0 0 1 0 1 0 0 1-1 0-1 0 5 13-8 0-4-1-3 0 6 0 9 0-18-1-5 0-1 0 2 0-9 0 6-52 10 0 19 46-11 0 12-1-1 0-8 0 0 0 1 0-3-1-1 0 1 0 0 0-1-15-1 0-1 0-3 1-3 0-2 0 5 0 0 0 0 1-1 0 1 0-1 0 4 1-1 0 1 0 1 0 1 0-1 1 4 0-5 0 2 3-2 0-1 0-2 0-1 1 1 0 1 0-3 0"/></g></g><clipPath id="kc04"><rect x="1296" y="573" width="127" height="127"/></clipPath><g transform="scale(.5)"><g clip-path="url(#kc04)"><path class="p5" d="M1316 612l1 0-2 4-3 0-1-1 2 0-3 0 1 0-2 0-2-1 13 17 0 0 0 0 0-1-2 0 0 0 0 0 0 0 0-1 0 0 1 0 0 0 0 0 0-1 0 0 0 0-7 0 5 0 0-1 0 0-1-26-1 0-1 0 1 1 0 0-1 0 1 0 0 1 2 0-1 0 2 0 0 0 0 1 1 0 0 0 1 0-1 0-5 74 3 0 1 0 0 0 1 1 0 0 0 0-3 0 0 0-3 1-4 0 1 0 0 0"/><path class="p2" d="M1327 646l1 0 1-33 0-1-1-24 0 0 0 1-1 0 2 0 0 0 1 1 0 0-1 0-10 73-5-1-3 0 3 0 2 0-1 0-1-1 0 0 3 0-2 0 0 0 5-1 0 0-5 0 12-30 0 0 0 0-2 1 1 0 0 0 1 0 59 54-51-82-1 0 1 0-2 1-1 0-2 0-2 0-1 0 0 1 2 0 0 0-2 0-1 0 0 1-1 0 0 0-1 0 2 1-1 0-1 0-3-16 4 0 9 26-1 0-3 0-1 0-5 1-1 0 0 0-7 0 0 0-1 1-4 0-1 0 0 0 0 1-3 0 6 0 5 0 6 0-3 1 1 0 2 4 4 0 1 1 5 0-7 0 4 0 0 1 5 0 2 0 0 0-5 0 4 1-2 0-1 0 7 0-9 0-1 1-5 0-7 21-4-1 3 0 8 0-2 0 4 0 5-1-2 0-2 0 2 0 0 0 2-1-1 0-4 0 0 0 5-1 0-13 1 0-1 0"/><path class="p9" d="M1318 594l-1 1-1 0-1 0"/><path class="p8" d="M1320 583l-2 0-1 0-3 1-7 83 2 0 0 1 3 0 0 0 1 0 2-71 0 0 0 0 1 0 1-1 1 0 0 0-1 0 2 0 0-1"/><path class="p6" d="M1317 588l-7-1-2 39 2 0-3-17 1 0 2 0 0-1 1 0 0 0 1 0 1 0-5-1 7 0 3 0 1 0 0 0-2-1 0 0-1-5 0-1 0 0 1 0 0 0 0 0 1-1 0 0 1 0-1 0 1 0-1-1 0 0-1 0 3-23 0 0-4 0 3 1 4 0 1 0-3 0-2 0-10 20 3 0 11 30-1 0-5 0 5 0-1-1 5 0-1 0-1 0-2 0-5-1 0 0 2 0-1 0"/><path class="p7" d="M1323 591l-7 0 0 0 0-1-2 0 0 0"/><path class="p1" d="M1326 612l0 0 0 0 0 0 0-1-1 0 0 0 0 0 0-1 1 0 0 0 0 0 5 19-2 0 0-1 1 0-3 0 1 0 0-1-1 0-1 0 3 36 1 0-1 1 0 0 1 0 1 0-1 0 0 1-1 0-2 0 0 0 0 1 1 0 0 0 0 0-1 0 1 1-1 0 2 0 0 0-1 4 0-22 0 0-1 0 1-1 1 0-2 0 0 9 3 0-5 0 6 25-6-19 0 0 0 0"/><path class="p3" d="M1335 616l3 1-1 0 0 0 3 0 0 0-2 1-2 0 1 0-1 0 2 1 6-35-18 78 1-1-4 0 6 0-1 0 2 0 0-1-2 0-3 0 0 0 4 0 0-1 5 0-3 0 0 0-1-1-1 0 0 0-1 0 1 0 1-22 0 0 2 0-1 0 0 0 0 1 3 0 0 0 1 0 0 0 1 1-2 0-3 0-1 0-1 1 0 0 0 0 4 0 1 0 1 1-4-9 10-10-4 0 1 0-1 0 3 1 0 0-2 22 2 0 1-1 3 0 2 0 2 0 0-1-2 0-30-23 15-24 3 1-2 0 2 0 0 0-1 0-2 1 3-9 1 1 3 41-3 1-1 0 2 0 0 0 3 0 1 1-2 0-3 0-3 0 2 0 0 1"/><path class="p2" d="M1326 626l1 0-3-20 1-1 0 0 2 0 0 0 0 0-1-1-1 0 1 0 0 0 0-1 0 0 65 87-64-87 0 0 1-1-1 0 0 0 1 0 1 0-1 32 67 53-69-53 0 0 1 0 0 1-6 0 0 0 3 1-5 0-1 0 3 0 1 0-5 1-1 0-1 0 3 0 4 1-3 0-5 0 2 0 2 0 1 1 87 44-81-44-1 0-4-29 1 0 2 0-3 0-1 1 2 0 7 0 8 0 1 0-3 1-26 37 17-15 0 0-1-1 1 0-1 0-1 0 1 0-1-1 1 0 0 0 0 0-1-1 0 0-2 0 1 0 2 0 1-1 0 0 78 57-78-57-1 12-2 0 1 0 0-1-1 0 2 0-2 0 8-11-8 0 2-39 0 1-6 0 0 0 75 97-73-96-1 0 0 0-1 12-1 0 7-1 5 0-1 0 3 0 3 0 6-1-7 0-8 0 0 0-4 0"/><path class="p8" d="M1312 634l-1 0 1 1-1 0 0 0 1 0-1 0 1 1-1 0 1 0 6-11 0-1-2 0-1 0 1 0 0 0-1-1-1 0 0 0-1 0 2 0 1-1 0 0 1-2-1 0-2 0 2 0-2 0 0-1 2 0-3 0-2 0 4-1-1 0 0 0 2 0 3-33-4 1-2 0 2 25 1 0 0 0-3-1 0 0 1 0 0 0 3 0 0-1 1 0 0 0 0 0 0-1 0 0 0 0-1 0-1 0 0-1 1 0-1 0 0 48 0 0-1 0 1 1 0 0-1 0 1 0 0 0-1 1 0 0 0 0"/><path class="p1" d="M1330 664l0 0 0-1-1 0-1 0-5 4 0 0 0 1-1 0 2-49 0 0 1 0 0 0-1-1 0 0-1 0-1 0 1 0-1-1 0 0-1 0 1 0"/><path class="p9" d="M1323 585l-1 0 1 0-1 1 1 0 0 0 0 0 1 0-5 4 1 0 0-1 1 0-1 0 0 0 0 0 0-1 0 0-1 0 0 0 1-1 0 0 0 0 3 81 0 0-1 0 1 1 1 0 1 0-2 0 1 0-2 1-5-77-3 0 1 0-1 1 0 0 1 0 1 0-4 0 2 1 1 0 2 0-2 0"/><path class="p6" d="M1319 649l0 0-1 2-1 0 0 1 1 0 0 0-1 0 1 0 0 1-6-50 1 0-1 0-2 0 3 1 0 0-2 0-3 0-1 1 1 0 9-19-1 0 0 0 1 0-3 46 3 0-1 0-3 0 6 0 2-1"/><path class="p5" d="M1314 617l0 0 2 1 7-26 0 0-2 0 3-1-1 0 2 0-4 0-5 0 0-1 3 0-3 0 2 0-5 0 7-1 1 0 2 0-15 25 1 1 0 0 0 0 3 0-1 0-3 1-1 0 0 0 4 0 2 0"/><path class="p7" d="M1309 663h0"/><path class="p3" d="M1335 633l-4-14 1 0-2 1 1 0-1 0 4 0-3 0 1 1 2 0 24-29 8 0-15 29-7 0-1 0 11 0-6 0-12-1 3 0 3 0 7 0-25 8 6 0-4 0-3 1-9 0 12 0-8 0 4 0-2 1-1 0 5 0-3 0 0 0-5 1 1 0-1 0 11 0 2 0-9 1-7 0 2-34-3 1 22 10 0 0-1-1 3 0-2 0 2 0-4-1-2 0"/><path class="p4" d="M1325 620l0 0-3 1 3 0 0 0 1 0 0 0 1 1-2 0-1 0 2 0 3 0 0 1-7 18 1 0-2 1-1 0-1 0-1 0 0 0 3 1-2 0-1 0 1 0-1 0 1 1 1 0 0 0 2 0 1 0 3 1 0 0-1 0-2 7-1 0-3-1 2 0-1 0-1 0 2 0-1-1 3 0 2 0 0 0 1 0-1-1 1 0-1 0 1 0"/><path class="p5" d="M1317 677l0 0 0 0-1 1 0 0-1 0 0 0 0 0 2 1 0-44-1 0-1 13"/><path class="p4" d="M1332 649l-2 0-14-43 0 0 1 0 1 0 1-1-2 0-1 0 2 0 0 0 0-1 13 44-1 0 5-1-2 0-5 0"/><path class="p2" d="M1322 617l-1 0-1 0 1 0 2 1 0 0 1 0 0 0 2 0-1 1 2 0-1 0 0 0-1 1 1 0-1 0 1 0-1 0-1 1 0 0 1 51-1 0 84 6-79-6-1-65-1 0 0-1-3 0-1 0 1 0 1-1-1 0 0 0 2 0 0 0-1-1 0 0 1 0 0 0-1 0 2-1-1 0-1 0 2 0 0 15 1 0-2-1-1 0 1 0 1-1 0 36-1 0 2 0 0 0-1 1-6 7 2 0 1 0 1-1 0 0 1 0-1 0-1-1-1 0 1 0 0 0 2 0 2-1 1 0-1 0 0 0 0 0 0-1 2-10-1 0 0 1 1 0 0 0-2 0 0 0-1 1 2 0 49 38-47-38-1 1-1 0 0 0 0 0"/><path class="p6" d="M1316 611l0 0 1-1 1 0-1 0-3 0 2 0 0-1 0 0 2 0 0 0-1-1 1-18 0 0-1 1 1 0-3 19 1 0 1 1 0 0-1 15-1 0 1-1 0 0 1 0 0 0 1 0-1-1-2 0-4 0 4 0 5-11 0 0 1 0-1 0-5 0-3 1-3 0-1 0 4 0-5 1 1 0 1 0-2 0 5 0-2 1 1 0 3 0-1 0 4-10 0 0 1 0 0-1-1 0 1 0-2 0-1 0 1-1-1 0 0 0 1 0 0-1 1 0 0 0 0 0 0 0 0-1 0 0 0 0 0 54-1 0-1-1"/><path class="p1" d="M1321 629l1 0 0 0 0 0 0 1 0 0 0 0 0 0 1 0 1 1 0 0 0 0-1 0 0 0 0 1 0 0 1 0 0 0 0 0 0 1 1 36-1 0 0 0 0 0"/><path class="p7" d="M1315 600l1 0 4 0-1 0-1 0-1-1 3 0-1 0 2 0-1-1 0 0-1 0-3 0-2 0 0-1 1 0 3 0 2 0 4 0-1-1-2 14-7-15 0 0 0 0"/><path class="p9" d="M1318 595l2 36-1 0-1 0 1 0 0 0 0 1 0 0-1 0 1 0 0 1 0 0-4-45 0 1-2 0"/><path class="p8" d="M1317 595l-1 0-1 0 1-1-1 0 0 0-1 0 1 73 0 0 0 1 0 0 1 0 1 0-1 0 1 1 0 0-1 0 1 0 0-41 1 0-2 0 0-9-1 0 2 0-3 0-1 8 4 0 0 0-2-1 2 0 0 0-1 0 2-1-1 0 1 0 0 0 0 0-3-1-1 0"/><path class="p3" d="M1331 588l2 0-1 0 0-1 0 0-2 0-1 0 1 0 1-1 1 0 5 0 4 0-1 0-1-1 0 0-1 15 0 0 4 0-1 1-1 0-2 0 1 4-5 28 1 0-4 0-3 0-1-1 0 0-1 0 2 0-3-29 2 0 0 0 1 0 3 0-2 1 1 0-1 0 0 0 12 6 1 0 6 0 2 0-4 0-3-1-2 0 0 0-3 0-12-1 11 0-1 0-7 0-2 0 10-1 11 0 11 0-1 0-5 0-9-1-2 19 8 0 2 1 5 0-8 0 0 0 1 0 3 1-12 0-7 0-5 0 0 0 14 1-7 0 3 0-9 0 5 1 4 0-7 0-2 0 4-30-10 0-1-1-4 0 6 0 4 0 5 0 4-1-11 0 7 0-8 0-4 0-6-1 5 0 3 0 4 34 0 0 1 0 0 0-2-1 0 0-2 0 0 0 2 0-3-1-2 0 3 0-3 0 4-1 6 0 2 0 0 0-3 0-2-1"/><path class="p4" d="M1314 633l-1-1-2 0 8 0 1 0-3-1 9 0-7 0-5 0 3 0-2-1-1 0-2 0-2 0 4 0-3-1 2 0-2 0 17-21 1 0-1-1 2 0 1 0 2 0-10 58-7 0"/><path class="p9" d="M1311 639l1 0 5 0-1 17 0 1-1 0 0 0 3 0 1 0 9-63 1 1 0 0 2 0-2 0 1 0 1 1-2 0 1 0-2 0"/><path class="p2" d="M1329 621l-2 0 2 0 0 1 1 0 1 0-2 0-2 1-2-15 1 0 0 0-2 0 0 0-3-1-1 0 1 0-1 0-1-1 0 0 1 0-1 0 2 0-1-1 1 0 4 33 0 0 1-30 4 10 0 0 1 0 56 61-58-60 1 0-1 0 0 0 1 1-1-13 1 1-18 38 3 0 7 0 6 0 6 1-5 0 1 0 4 0-5 0-5 1 12-14-1 0-1 0 0 1 3 0 2 0-24 1-1 0-4 1 5 0-1 0-6 0 2 1"/><path class="p7" d="M1318 672l0 0 0 0-2 0 0 0-1-1-2 0 0 0 2-15 0 0-1 0 0 0 0 1-1 0 0 0-1 0 1 0"/><path class="p5" d="M1318 628l-1 0 0-1 0 0 1 0 0 0 1 0-2-1"/><path class="p8" d="M1314 659l0-1 0 0-1 0-1 0 0 0 1-1 2 0 0-40 1 0 1 0-1 0-1 0 0-1 1 0 1 0 0 0-1-1 4-27 3 0-2 0 2 0 0 42 0-1-10 0-3 0 5 0-1 0-2-1-3 0 4 0-2 0 0 0 0-1-3 0 1 0 3 0 1-1-2 0-1 0-2 0 3 0-1-17-3 0 2-1 0 0-1 0 2 0 4 0 0-1-4 0 0 0 1 0 5 0-1-1-2 0-1 0 4 19 1 0-1 0 1 0-1 0-1 1 0 0 1 0-4 13 10 0 0-1-2 0 2 0-10 0 9-1-3 0 0 0-3 0 1 0 4-52-1 0-4 46-1 0 0-1 4 0-2 0-1 0-1 0 1-1 0 0 0 0-1 0-3-15 0 0-2 0 0 1 0 0 2 0 1 0 0 0 0 1 0 0-1 0 0 0 0 1-1 0 1 0 0 0-1 0 2 1 4 0-5 0 0 3 0 0 1 0 0 0-1 1 1 0 1 0 0 0"/><path class="p3" d="M1330 626l6 10 0 0-1 0-1 0 1 0-2-1 4 0 0 0-1 0-4-1 0 0 1 0-10 15 1 0-2 0 4 0 83 41-71-76-4 18-1 0-2 0-1-1-3 0 2 0-2 0 1 0 8 11 3 0 4 1-3 0-9 0 6 0 1 1 1 0 5 0-2 0 10 0 9 1-2 0-6 0 2 0-3 0-11 1 8 0-2 0-10 0-2-33 17 0-22 24 9 0"/><path class="p6" d="M1316 623l0 0 1 0-1-1 1 0 0 0 0 0 1 0-1-1 1 0-1 0 1 0-5 5 0 0 3 0-1 39 1 1-1 0 1 0 0 0 0 1 1 0 0 0 1 0 0 0-1 1 1 0-1 0 2 0-2 0 1 1-1 0 0 0 0 0 0 0-2-81 4-1 3 0 3 0-3 0 0 0-1-1-3 19 0 0 1 0-3-6 1 0-1 0-3 37 1 0 1 0-1 0 2 0-1 1 3 0-1-18-2 0 1-10 0 0 0 0 1 0-1 0 0-1 0 0 0 0-1 33 0 0 1 0-4 0 2 1 1 0-4 0 1 0 2 0-1 1 3 7"/><path class="p1" d="M1327 627l-1 0 0 0 0 0 0 1 0 0 0 0 0 0 0 0 1 1 0 0-1 0-1-4 0 0 3 65-2 0-2 0 1 1 0 0-1 0 0 0 1 0 0 1-2 0 1 0-2 0-1 1 0 0 0 0"/></g></g><clipPath id="kc05"><rect x="1428" y="573" width="127" height="127"/></clipPath><g transform="scale(.5)"><g clip-path="url(#kc05)"><path class="p6" d="M1489 588l1-1-1 39-5 0 5-17-1 0 4 0 5-1 1 0 1 0 3 0 2 0-3-1-4 0-3 0 3 0 2 0 5-1 0 0-11-5 1-1 0 0 1 0 0 0 0 0 0-1 0 0 2 0 0 0-1 0 0-1 0 0-2 0-13-23 0 0 3 0 3 1-5 0-4 0 5 0-1 0 11 20 2 0 1 30-9 0 0 0-3 0-2-1-5 0-2 0 0 0 7 0-6-1 5 0 2 0 5 0"/><path class="p2" d="M1465 646l-3 0 3-33-1-1 6-24 1 0 2 1 0 0 0 0-1 0 0 1 2 0 0 0 11 73 1-1 0 0-3 0-2 0-3 0 2-1-2 0-3 0 1 0 3 0-2-1 5 0 4 0-8-30-1 0-1 0 0 1-1 0 0 0 0 0-31 54 27-82 2 0-2 0 2 1 1 0-1 0 1 0 0 0 0 1 1 0 1 0-1 0 1 0-1 1 0 0-3 0 3 0-1 1 1 0 0 0 17-16-7 0-11 26 2 0 2 0-4 0 4 1 1 0 0 0 3 0-2 0 2 1-1 0 1 0 0 0 5 1 2 0-2 0-2 0-9 0-1 1 1 0-4 4 3 0 1 1-2 0 3 0 2 0-5 1 0 0-1 0 3 0 3 0-5 1-3 0 0 0 1 0 4 0 2 1-3 0 0 21-1-1 0 0-4 0-2 0-2 0-1-1 3 0 7 0 0 0 7 0-1-1 3 0 2 0 2 0-3-1 3-13-2 0-3 0"/><path class="p5" d="M1486 612l-2 0-5 4 5 0 3-1 3 0 4 0 5 0 3 0 0-1-18 17 0 0 3 0 1-1-1 0 0 0 2 0-2 0 0-1-1 0-1 0 0 0 1 0 2-1 1 0 0 0 3 0-2 0-2-1 0 0 0-26 0 0 3 0-2 1 1 0-3 0 0 0 1 1-1 0-2 0 1 0 0 0-1 1 0 0 1 0-1 0 3 0 0 74-3 0-6 0-1 0 5 1-3 0 4 0 7 0-1 0 3 1 0 0-3 0-3 0"/><path class="p1" d="M1474 612l1 0 1 0-1 0 1-1 0 0-1 0-2 0 1-1-1 0-1 0-1 0-11 19 1 0 2-1 3 0 0 0-1 0-5-1-6 0 3 0 13 36 0 0 0 1 0 0 0 0 0 0 2 0-1 1 1 0-1 0 2 0-2 1 0 0 1 0 0 0 1 0-1 1 1 0-1 0 1 0 0 4 1-22-1 0 1 0 0-1 0 0 0 0 3 9 0 0 3 0 2 25-6-19 0 0 0 0"/><path class="p8" d="M1472 583l2 0 5 0 4 1 12 83-4 0-1 1 2 0-3 0 3 0 4-71-1 0 1 0-1 0-2-1 0 0-1 0-1 0-1 0-1-1"/><path class="p3" d="M1469 616l1 1 0 0 0 0-1 0-2 0 0 1 1 0-2 0-1 0-2 1 13-35 0 78 0-1 1 0-3 0 2 0 0 0-1-1 1 0 2 0 0 0-2 0-2-1-1 0 1 0 0 0 0-1 1 0 1 0 0 0 3 0-2-22-2 0 1 0-1 0-1 0 1 1-2 0 2 0 0 0 1 0 0 1-2 0 2 0 0 0-3 1 1 0 0 0-2 0-1 0 2 1 2-9 1-10 2 0 1 0 0 0-3 1-1 0-5 22-1 0 0-1-2 0 0 0-1 0 0-1 0 0 8-23 0-24-2 1 0 0-1 0 2 0 0 0 2 1 4-9 0 1-7 41 1 1 1 0-1 0 1 0-1 0 0 1-1 0 2 0-1 0 0 0 0 1"/><path class="p9" d="M1500 594l0 1-3 0 9 0"/><path class="p7" d="M1484 591l8 0-1 0 1-1 1 0 0 0"/><path class="p7" d="M1490 663h0"/><path class="p3" d="M1472 633l3-14-1 0 2 1 1 0 0 0-2 0 1 0-1 1 0 0-10-29 1 0 2 29-1 0-4 0-1 0 5 0 5-1-3 0-3 0-5 0 20 8-1 0-2 0-1 1 7 0-5 0 0 0-4 0 3 1 3 0-7 0 9 0 6 0-3 1 3 0-2 0-4 0-3 0 3 1 1 0-3-34 3 1-5 10-2 0 2-1 0 0 0 0-2 0 1-1 0 0"/><path class="p4" d="M1485 620l0 0-1 1-2 0 1 0-1 0 1 0 0 1 2 0-1 0-2 0 0 0-1 1 0 18 1 0 0 1-1 0-1 0 0 0 0 0 2 1 0 0-2 0 0 0 2 0 0 1-2 0 0 0-2 0-1 0 0 1-1 0 2 0 0 7 3 0 0-1-2 0 1 0 0 0 0 0-1-1 0 0-2 0 0 0 0 0-1-1-2 0 3 0-1 0"/><path class="p2" d="M1474 626l-1 0 3-20 1-1-1 0 0 0-1 0 1 0 0-1-1 0 2 0-1 0 0-1-2 0-24 87 24-87 1 0 0-1 2 0 0 0-1 0-2 0 0 32-29 53 29-53 1 0 0 0 1 1-4 0-2 0-1 1 3 0 1 0 3 0 1 0 2 1-3 0 4 0 3 0 1 1 3 0-5 0 0 0 0 0 2 1-28 44 27-44 2 0 4-29 8 0-3 0 1 0-7 1-8 0 0 0-6 0 1 0-3 1 11 37-7-15 1 0 0-1 2 0 0 0 1 0-1 0-1-1-1 0 1 0 0 0-1-1 2 0 0 0-2 0-1 0 1-1 0 0-16 57 19-57-1 12 0 0-1 0-1-1 0 0-1 0 1 0-3-11 4 0-10-39 2 1 3 0 8 0-23 97 27-96 2 0-4 0-15 12-2 0 7-1-2 0-3 0 1 0 4 0-1-1 5 0 1 0-2 0 1 0"/><path class="p9" d="M1510 585l22 0 0 0-24 1 0 0-2 0 0 0-1 0 2 4-1 0 25-1-25 0-2 0 1 0 2 0 9-1-7 0-1 0-1 0 0-1 0 0 20 0-28 81 2 0 6 0 5 1-3 0-2 0 0 0 7 0 6 1 12-77 1 0-9 0 5 1 2 0-9 0 1 0 2 0-5 1-2 0-6 0 0 0"/><path class="p8" d="M1498 634l1 0-1 1 2 0 1 0-1 0 0 0-1 1-2 0 1 0-2-11 0-1-1 0 0 0 1 0 2 0 0-1 0 0 0 0 1 0-3 0 0-1 0 0-3-2 0 0 2 0 3 0-1 0 3-1 0 0 2 0-8 0 2-1 8 0 1 0 2 0-5-33-2 1-2 0 2 25-1 0-1 0 1-1 3 0-2 0 1 0-1 0-3-1 0 0 0 0-1 0 0-1 1 0-1 0-1 0 1 0 3-1 0 0 1 0-1 48-2 0 1 0 0 1-1 0 0 0-3 0 2 0-1 1 0 0 0 0"/><path class="p6" d="M1488 649l-1 0 3 2 0 0-2 1 1 0 1 0-1 0-1 0 0 1-1-50-3 0 1 0 4 0-3 1-5 0 0 0 6 0-1 1 0 0-1-19 1 0 0 0-2 0 1 46 3 0-1 0 1 0 0 0-3-1"/><path class="p5" d="M1486 617l1 0 1 1 0-26 5 0-4 0-2-1 0 0 2 0 0 0 1 0-3-1 0 0 1 0 0 0 5 0-8-1 2 0 4 0 9 25-3 1-4 0-4 0-1 0 8 0 0 1 4 0 6 0 0 0 8 0"/><path class="p1" d="M1477 664l-1 0 2-1 2 0 0 0-2 4 0 0 0 1-1 0-3-49 0 0-1 0-1 0 1-1 1 0-1 0 1 0 1 0-1-1 0 0 0 0 1 0"/><path class="p1" d="M1474 629l0 0 1 0 1 0-1 1 0 0 0 0 1 0-1 0 1 1 0 0 1 0-1 0 1 0-1 1 1 0 0 0 0 0 0 0 0 1 0 36-1 0-1 0 1 0"/><path class="p7" d="M1493 600l9 0-3 0-2 0-8 0-1-1-2 0-1 0-1 0-2-1-3 0-2 0 4 0 7 0 6-1 1 0-3 0-4 0-4 0 4-1 3 14-3-15-1 0 1 0"/><path class="p8" d="M1492 595l3 0 1 0 1-1-1 0 0 0-1 0-3 73 1 0 1 1 0 0-2 0-1 0 1 0 0 1 1 0 1 0 1 0 2-41-1 0-1 0 4-9-2 0 0 0-3 0 5 8-1 0 0 0 1-1 0 0 0 0 1 0-1-1-1 0-1 0 1 0 1 0-1-1 0 0"/><path class="p4" d="M1477 649l3 0 3-43-1 0-2 0 2 0 1-1 2 0-1 0-2 0-1 0-1-1-3 44 0 0 3-1 4 0 1 0"/><path class="p6" d="M1487 611l1 0-1-1-1 0 0 0 3 0 0 0-1-1 1 0-1 0-1 0 0-1 1-18 1 0 0 1 0 0 2 19-1 0 0 1-1 0 0 15-1 0 2-1 0 0-1 0 0 0-1 0 0-1 2 0 1 0-3 0-5-11-4 0 2 0-2 0 5 0 3 1-1 0-2 0-4 0 0 1 5 0 5 0 1 0-1 0 3 1-2 0 2 0 2 0-7-10 1 0-1 0 1-1 2 0-1 0-2 0 0 0 0-1 0 0-1 0 1 0-1-1-2 0 1 0-1 0-1 0 0-1-1 0 0 0 0 54 0 0 1-1"/><path class="p5" d="M1486 677l-1 0 0 0 0 1 1 0 0 0-1 0 1 0-1 1 2-44 0 0 13 13"/><path class="p2" d="M1475 617l1 0-1 0 0 0-2 1 2 0 0 0 1 0-2 0 1 1-1 0 1 0 2 0 1 1 0 0-1 0 0 0-1 0 0 1 1 0-1 51 1 0-31 6 29-6-2-65 1 0 2-1 0 0 1 0-2 0 0-1 0 0 0 0-1 0-1 0 1-1 1 0 1 0-1 0-1 0-1-1 0 0 1 0 0 0 2 15-2 0 1-1 0 0 0 0-2-1 3 36 1 0-1 0 1 0 0 1 3 7-1 0-1 0 0-1 1 0-1 0-1 0 1-1 0 0-1 0 0 0 0 0 1-1-1 0 0 0-1 0 1 0 0-1 2-10 1 0 2 1-1 0-2 0 1 0-2 0 2 1-1 0-28 38 27-38 2 1 0 0-1 0-1 0"/><path class="p3" d="M1476 588l-2 0 0 0-1-1 1 0 0 0 0 0-1 0-2-1 2 0-1 0-3 0-1 0 1-1-3 0 8 15 0 0-1 0-1 1-1 0 1 0 3 4-2 28-2 0 3 0 0 0 1-1 0 0 1 0-1 0 4-29 0 0 0 0-1 0 0 0 0 1 0 0 0 0-1 0-5 6-2 0 1 0-2 0 4 0 4-1 6 0-4 0 2 0-6-1-2 0 1 0 6 0-3 0-2-1-5 0-5 0-4 0 4 0 2-1-2 19-3 0-2 1-3 0 0 0 2 0-1 0 0 1 6 0 3 0 3 0-6 0 3 1 6 0-5 0 6 0-6 1-1 0 3 0 3 0-2-30 1 0 0-1 3 0-6 0 2 0 0 0-2-1 2 0-2 0 8 0 3 0 0-1-1 0-4 0 1 34-1 0 0 0 0 0 2-1-2 0 0 0 1 0 1 0 0-1 2 0-1 0 1 0-2-1-3 0-1 0 0 0 1 0 3-1"/><path class="p9" d="M1510 595l-2 36 1 0-1 0-3 0 0 0 1 1 0 0 19 0-7 0-11 1 2 0 0-45 12 1-8 0"/><path class="p7" d="M1493 672l0 0 0 0 2 0-1 0-1-1 0 0 1 0-5-15 1 0 0 0 1 0 1 1 1 0 1 0 3 0 2 0"/><path class="p3" d="M1476 626l-4 10 0 0 2 0 0 0 2 0 0-1-2 0 0 0 0 0 3-1 1 0-1 0 6 15-2 0 0 0 6 0-33 41 19-76-1 18-1 0 2 0 1-1 2 0-2 0 3 0 2 0-7 11 0 0 4 1-7 0-1 0 5 0 0 1-2 0-7 0 1 0-6 0-3 1-5 0 1 0 1 0-3 0 4 1-5 0-1 0-1 0 3-33-2 0 29 24 1 0"/><path class="p4" d="M1483 633l-1-1 3 0-3 0 3 0 0-1-2 0-1 0 3 0 1 0-2-1 2 0 1 0 4 0 0 0-1-1-2 0 3 0-12-21 1 0 0-1-2 0 0 0 0 0 4 58 0 0"/><path class="p9" d="M1531 639l1 0 1 0-31 17-4 1-3 0-2 0 32 0-27 0 34-63-10 1-7 0-3 0 2 0-1 0 3 1-1 0 3 0-2 0"/><path class="p8" d="M1499 659l0-1 0 0-2 0 1 0-1 0-1-1 1 0-1-40-1 0-1 0 1 0 1 0 1-1-1 0-2 0 1 0 1-1 1-27 3 0-3 0-2 0-2 42 0-1 3 0 3 0-2 0 4 0 0-1 1 0-8 0 2 0 2 0-1-1 1 0 1 0 0 0 6-1-2 0-1 0-4 0 1 0-2-17 5 0-1-1-5 0-3 0-3 0 6 0-1-1 2 0-2 0-3 0-3 0-1-1 1 0 4 0 3 19-1 0 2 0-1 0 0 0 1 1 0 0-1 0 9 13-8 0 0-1 0 0-5 0 7 0-5-1 5 0-6 0 2 0 0 0-6-52-3 0 32 46-6 0-1-1-2 0-8 0-2 0 0 0-1-1 0 0-1 0 1 0 0-15 0 0 2 0 0 1 2 0-1 0 0 0 2 0-3 1 1 0 0 0-2 0-3 1 1 0 0 0 0 0 0 0 0 1-3 0 4 0-1 3 2 0 1 0 1 0-1 1-1 0 0 0-1 0"/><path class="p1" d="M1476 627l0 0 0 0 0 0 0 1 0 0 1 0 0 0 0 0-2 1 1 0 2 0-4-4 0 0-4 65-3 0 0 0 5 1 3 0-1 0-1 0-4 0-1 1 2 0 1 0 1 0 2 1 1 0 2 0"/><path class="p2" d="M1477 621l1 0-1 0 0 1 1 0-1 0 0 0 0 1 4-15-1 0 1 0 0 0 2 0 0-1 0 0 1 0 0 0 0-1 0 0 0 0 2 0-2 0 0-1 0 0-6 33-1 0-5-30 7 10-1 0-1 0-25 61 24-60 1 0 0 0-1 0-1 1-3-13 0 1 20 38-3 0-5 0-5 0 0 1 2 0 1 0 1 0 2 0-1 1 1-14 1 0-1 0-3 1-2 0-7 0-8 1 3 0 3 1 0 0 0 0-1 0 3 1"/><path class="p5" d="M1484 628l2 0 0-1-2 0-1 0-1 0 2 0 0-1"/><path class="p6" d="M1490 623l1 0-2 0 0-1-2 0 2 0 0 0 1 0-1-1-1 0 0 0 0 0 8 5 0 0 0 0-7 39-1 1 1 0-1 0 1 0-1 1-2 0 1 0 0 0-1 0 2 1-1 0-1 0 1 0 0 0-2 1-1 0 0 0-1 0 1 0 3-81 0-1 2 0-3 0 0 0-1 0 3-1-1 19 2 0-1 0-14-6-1 0 1 0 29 37 0 0-5 0 0 0 2 0 5 1-2 0-19-18 1 0 6-10-1 0 1 0-2 0 1 0-1-1-1 0 0 0 0 33-2 0 0 0 0 0-2 1 3 0 2 0-3 0-1 0-1 1-8 7"/></g></g><clipPath id="kc06"><rect x="1561" y="573" width="127" height="127"/></clipPath><g transform="scale(.5)"><g clip-path="url(#kc06)"><path class="p7" d="M1631 591l27 0-2 0-2-1-2 0-3 0"/><path class="p9" d="M1609 594l-2 1-2 0-2 0"/><path class="p1" d="M1658 612l-2 0-3 0-2 0-3-1-3 0-2 0-3 0-2-1-3 0-3 0-2 0-8 19-3 0-2-1-3 0-2 0-3 0-3-1-2 0-3 0 50 36-2 0-2 1-3 0-2 0-3 0-2 0-2 1-3 0-2 0-3 0-2 1-2 0-3 0-2 0-2 0-3 1-2 0-3 0-2 0-2 4 24-22-3 0-2 0-2-1-2 0-2 0 30 9-4 0-4 0 9 25-47-19-2 0-2 0"/><path class="p2" d="M1627 646l-2 0 33-33-3-1-45-24-4 0-4 1-3 0-4 0-4 0 67 1-2 0-2 0-65 73 68-1-2 0-2 0-2 0-2 0-2-1-2 0-2 0-2 0-2 0-2-1-2 0-2 0-41-30-3 0 68 0-2 1-2 0-2 0-2 0-2 54-32-82-2 0-2 0-2 1-3 0-2 0-2 0-2 0-2 1-2 0-2 0-2 0-3 0 67 1-4 0-5 0-5 0-4 1-5 0-5 0 26-16-3 0 5 26-2 0-3 0-2 0-3 1-2 0-3 0-2 0-2 0-3 1-2 0-3 0-2 0-2 1-3 0-2 0-3 0-2 0-3 1-2 0-2 4-3 0-2 1-3 0-2 0-3 0-2 1-2 0 67 0-2 0-2 0-2 1-3 0-2 0-2 0-3 0-2 1-2 0 12 21-6-1-6 0-5 0-6 0-6 0-6-1-5 0-6 0-6 0-6 0 66-1-2 0-2 0-2 0-2-1-8-13-2 0-2 0"/><path class="p6" d="M1601 588l-2-1-5 39-2 0 61-17-3 0-3 0-3-1-3 0-3 0-3 0-2 0-3-1-3 0-3 0-3 0-3 0-3-1-3 0 23-5-4-1-4 0-4 0-4 0-4 0-4-1-4 0-4 0-4 0-4 0-4-1 67 0-2 0-40-23-4 0-4 0-4 1-4 0-5 0-4 0 67 0-69 20 67 0-20 30-2 0-2 0-2 0-2-1-3 0-2 0-2 0-2 0-2-1-2 0-2 0-2 0"/><path class="p5" d="M1604 612l-3 0 18 4-4 0-5-1-4 0-5 0-5 0-4 0 66-1-11 17-2 0-2 0-2-1-3 0-2 0-2 0-2 0-3-1-2 0-2 0-2 0-2 0-3-1-2 0-2 0-2 0-3 0-2-1-2 0-2-26-2 0-3 0-2 1-2 0-2 0-3 0 67 1-4 0-4 0-4 0-4 0-4 1-4 0-4 0-4 0-4 0 15 74-2 0-2 0-3 0-2 1-2 0-2 0-3 0-2 0-2 1-3 0-2 0-2 0"/><path class="p3" d="M1651 616l-4 1-4 0-3 0-4 0-4 0-3 1-4 0-4 0-4 0-3 1-17-35 34 78-2-1-3 0-2 0-2 0-2 0-2-1-2 0-2 0-2 0-2 0-2-1-2 0-2 0-2 0-2-1-2 0-2 0-2 0-3 0-2-22 68 0-3 0-2 0-3 0-3 1-2 0-3 0-3 0-2 0-3 1-2 0-3 0-3 0-2 1-3 0-3 0-2 0-3 0-3 1-2-9 3-10-3 0-3 0-3 0-3 1-3 0 50 22-3 0-2-1-2 0-2 0-2 0-2-1-2 0-6-23-18-24-3 1-2 0-2 0-3 0-2 0-2 1 54-9-2 1-49 41-3 1-2 0 68 0-2 0-3 0-2 1-3 0-3 0-2 0-3 0-2 1"/><path class="p8" d="M1599 583l-3 0-3 0-2 1 8 83-3 0-3 1-2 0 67 0-2 0-2-71-2 0-3 0-2 0-2-1-2 0-3 0-2 0-2 0-2-1"/><path class="p4" d="M1633 620l-2 0-2 1-3 0-2 0-2 0-2 0-2 1-2 0-2 0-2 0-2 0-2 1 11 18-3 0-3 1-2 0-3 0-3 0-2 0-3 1-3 0-2 0-3 0-3 0 68 1-3 0-2 0-3 0-3 0-2 1-3 0-3 0-3 7-2 0-3-1-3 0-2 0-3 0-3 0-3-1-2 0-3 0-3 0-2 0-3-1-3 0-2 0-3 0"/><path class="p7" d="M1648 663h0"/><path class="p1" d="M1610 664l-4 0-4-1-3 0-4 0 15 4-4 0-4 1-4 0 10-49-3 0-2 0-3 0-2-1-2 0-3 0-2 0 67 0-3-1-3 0-3 0-4 0"/><path class="p8" d="M1604 634l-3 0-2 1-3 0-3 0-2 0 67 0-3 1-4 0-4 0 10-11-3-1-2 0-3 0-3 0-3 0-3-1-2 0-3 0-3 0-3 0-2-1-3 0-18-2-2 0-2 0-2 0-2 0-2-1-2 0-3 0-2 0 68-1-2 0-2 0-2 0-45-33-2 1-2 0-5 25-5 0 66 0-2-1-2 0-3 0-2 0-3 0-2-1-3 0-2 0-2 0-3-1-2 0-3 0-2 0-2 0-3-1-2 0-3 0-2 48-3 0-2 0-2 1-3 0-2 0-3 0-2 0-3 1-2 0-2 0"/><path class="p9" d="M1634 585l-2 0-2 0-2 1-2 0-2 0-2 0-2 0 15 4-2 0-2-1-2 0-2 0-2 0-2 0-2-1-2 0-2 0-3 0-2-1-2 0-2 0-8 81-2 0-2 0-2 1-3 0-2 0 67 0-6 0-5 1-2-77-2 0-2 0-2 1-3 0-2 0-2 0-3 0-2 1-2 0-3 0-2 0"/><path class="p6" d="M1651 649l-4 0 2 2-2 0-2 1-2 0-2 0-2 0-2 0-2 1 23-50-2 0-3 0-3 0-2 1-3 0-3 0-2 0-3 1-2 0-43-19-3 0 67 0-4 0-58 46-5 0 68 0-2 0-3 0-2-1"/><path class="p2" d="M1632 626l-2 0 13-20-4-1-4 0-3 0-4 0-4 0-4-1-4 0-4 0-3 0-4-1-4 0-4 87-4-87-4 0 68-1-2 0-2 0-2 0-2 0-2 32-2 53-2-53-2 0-2 0-3 1-45 0 67 0-2 1-3 0-2 0-2 0-3 0-2 1-3 0-2 0-3 0-2 1-3 0-2 0-3 0-2 0-3 1-2 44-2-44-3 0-2-29-3 0-2 0-3 0-2 1-3 0-2 0-3 0-2 0-3 1 48 37 21-15-2 0-2-1-3 0-2 0-2 0-3 0-2-1-2 0-3 0-2 0-2-1-3 0-2 0-2 0-3 0-2-1-2 0-3 57-2-57-2 12-3 0-2 0-2-1-3 0-2 0-2 0 34-11-3 0 15-39-4 1-5 0-4 0-4 97-4-96-4 0-5 0 28 12-3 0-4-1-3 0-3 0-3 0-4 0-3-1-3 0-4 0-3 0-3 0"/><path class="p3" d="M1635 633l-8-14-2 0-3 1-3 0-2 0-3 0-2 0-3 1-3 0 52-29-3 0-12 29-3 0-4 0-4 0-3 0-4-1-4 0-4 0-3 0 7 8-3 0-2 0-3 1-3 0-3 0-2 0-3 0-3 1-3 0-2 0-3 0 67 0-2 1-2 0-2 0-2 0-2 0-2 1-2 0-2-34-2 1 0 10-5 0-6-1-5 0-5 0-6 0-5-1-5 0"/><path class="p5" d="M1627 617l-3 0-3 1 26-26-2 0-3 0-2-1-3 0-2 0-2 0-3 0-2-1-3 0-2 0-3 0-2 0-3-1-2 0-3 0-7 25-4 1-3 0-3 0-4 0 68 0-2 1-2 0-3 0-2 0-2 0"/><path class="p5" d="M1643 677l-2 0-2 0-2 1-3 0-2 0-2 0-3 0-2 1 20-44-4 0-46 13"/><path class="p9" d="M1616 595l4 36-3 0-3 0-3 0-3 0-2 1-3 0-3 0-3 0-3 1-3 0 65-45-3 1-2 0"/><path class="p4" d="M1648 649l-2 0-39-43-3 0-2 0-3 0-3-1-3 0-2 0 67 0-3 0-4-1-47 44-2 0-3-1-2 0-3 0"/><path class="p8" d="M1648 595l-2 0-3 0-2-1-3 0-2 0-3 0-32 73-3 0-2 1-3 0-2 0 67 0-4 0-5 1-4 0-5 0-5 0 22-41-2 0-2 0-24-9-3 0-3 0-20 0 27 8-2 0-3 0-2-1-2 0-2 0-2 0-2-1-2 0-2 0-2 0-3 0-2-1-2 0"/><path class="p6" d="M1631 611l-3 0-2-1-3 0-2 0-3 0-2 0-3-1-2 0-3 0-2 0-3-1 0-18-4 0-5 1-5 0 34 19 35 0-4 1-5 0 9 15-2 0-3-1-3 0-2 0-3 0-3 0-3-1-2 0-3 0-3 0-41-11 68 0-3 0-4 0-4 0-4 1-3 0-4 0-4 0-3 1-4 0-4 0-4 0-3 0-4 1-4 0-4 0-3 0 6-10-4 0-4 0-4-1-4 0 68 0-3 0-3 0-3-1-3 0-3 0-3 0-3-1-3 0-3 0-3 0-3 0-3-1-3 0-3 0-3 54-3 0-3-1"/><path class="p3" d="M1614 588l-3 0-2 0-2-1-3 0-2 0-2 0-3 0-2-1-2 0-2 0 67 0-2 0-3-1-2 0-20 15-5 0-4 0-5 1-5 0-4 0 42 4-21 28-3 0-3 0-2 0-3-1-3 0-3 0-2 0-19-29 67 0-2 0-2 0-2 0-2 1-2 0-2 0-2 0 1 6-4 0-4 0-4 0-5 0-4-1-4 0-5 0-4 0-4-1-5 0-4 0-4 0-5 0 68-1-4 0-4 0-3 0-4 0-4-1-3 19-4 0-3 1-4 0-4 0-3 0-4 0-4 1-3 0-4 0-4 0-3 0-4 1 67 0-3 0-3 0-3 1-3 0-3 0-3 0-4-30 22 0-3-1-4 0-4 0-4 0-4 0-4-1-3 0-4 0-4 0-4 0-4-1-4 0-3 0-9 34-2 0-2 0-2 0-2-1-3 0 68 0-2 0-3 0-2-1-2 0-3 0-2 0-2-1-3 0-2 0-3 0-2 0-2-1"/><path class="p1" d="M1633 629l-2 0-2 0-2 0-3 1-2 0-2 0-2 0-2 0-2 1-2 0-2 0-3 0-2 0-2 1-2 0-2 0-2 0-2 0-2 1-3 36 68 0-4 0-4 0"/><path class="p7" d="M1636 600l-4 0-5 0-4 0-5 0-4-1-5 0-4 0-4 0-5-1-4 0 66 0-3 0-2 0-3-1-3 0-3 0-3 0-3 0-3-1-3 14 11-15-2 0-2 0"/><path class="p2" d="M1648 617l-4 0-4 0-3 0-4 1-4 0-3 0-4 0-4 0-3 1-4 0-3 0-4 0-4 1-3 0-4 0-4 0 68 0-2 1-2 0-2 51-2 0-2 6-2-6-9-65-2 0-2-1-2 0-2 0-2 0-2-1-2 0-2 0-2 0-2 0-3-1-2 0-2 0-2 0-2 0-2-1-2 0-2 0-2 0-2 15-2 0 48-1-2 0-2 0-2-1-35 36-3 0-3 0-3 0 67 1-9 7-3 0-2 0-3-1-2 0-3 0-2 0-3-1-2 0-3 0-2 0-3 0-2-1-2 0-3 0-2 0-3 0-2-1-15-10-3 0 68 1-2 0-2 0-2 0-2 0-2 1-2 0-3 38-2-38-2 1-2 0-2 0-2 0"/><path class="p7" d="M1624 672l-2 0-2 0-3 0-2 0-2-1-2 0-2 0 46-15-3 0-3 0-2 0-3 1-2 0-3 0-2 0-3 0"/><path class="p3" d="M1626 626l-2 10-2 0-3 0-2 0-3 0-2-1-2 0-3 0-2 0 50-1-3 0-3 0-51 15-3 0-3 0 66 0-4 41-6-76 9 18-2 0-3 0-2-1-3 0-2 0-3 0-2 0-27 11-3 0-2 1-3 0-2 0-3 0-2 1-2 0-3 0-2 0 67 0-4 1-5 0-4 0-5 0-5 0-4 1-5 0-4 0-5 0-5-33-4 0-3 24-3 0"/><path class="p9" d="M1650 639l-4 0-4 0-30 17-3 1-4 0-3 0-3 0-3 0 22-63-6 1-5 0-6 0-6 0-6 0 68 1-3 0-2 0-3 0"/><path class="p6" d="M1602 623l-2 0-2 0-3-1-2 0-2 0 67 0-2 0-2-1-3 0-2 0-2 0-53 5-3 0 67 0-20 39-4 1-4 0-4 0-4 0-4 1-4 0-4 0-4 0-4 0-4 1-5 0-4 0 67 0-5 0-5 1-5 0-5 0-5 0-5 0-19-81-3-1-2 0-2 0-2 0-2 0-2-1 63 19-3 0-4 0-47-6-4 0-5 0 52 37-3 0-3 0-2 0-3 0-3 1-3 0-19-18-3 0 26-10-2 0-3 0-2 0-2 0-2-1-3 0-2 0 33 33-6 0-6 0-5 0-6 1-6 0-6 0-5 0-6 0-6 1 26 7"/><path class="p4" d="M1647 633l-3-1-3 0-3 0-3 0-3-1-3 0-3 0-3 0-3 0-3-1-3 0-3 0-3 0-2 0-3-1-3 0-3 0 48-21-2 0-2-1-2 0-2 0-2 0-17 58-3 0"/><path class="p5" d="M1592 628l66 0-5-1-4 0-5 0-5 0-5 0-5-1"/><path class="p8" d="M1598 659l-3-1-2 0-2 0 67 0-3 0-2-1-3 0-29-40-4 0-5 0-5 0-5 0-5-1-5 0 66 0-2 0-2-1-21-27-3 0-2 0-2 0-34 42-3-1 67 0-6 0-5 0-6 0-5-1-6 0-5 0-6 0-6 0-5-1-6 0-5 0-6 0 68-1-4 0-3 0-3 0-3 0-4-17-3 0-3-1-4 0-3 0-3 0-3 0-4-1-3 0-3 0-4 0-3 0-3-1-3 0-4 0 64 19-3 0-3 0-4 0-3 0-4 1-3 0-4 0-10 13-4 0-3-1-3 0-4 0-3 0-4-1-3 0-4 0-3 0-4 0 0-52 68 0-25 46-3 0-3-1-2 0 34 0-5 0-6 0-6-1-6 0-5 0-6 0-9-15-3 0-2 0-2 1-2 0-3 0-2 0-2 0-3 1-2 0-2 0-3 0 67 1-5 0-4 0-5 0-5 0-5 1-5 0-4 0-5 3-5 0-5 0-4 0-5 1-5 0-5 0 67 0"/><path class="p2" d="M1616 621l-2 0-2 0-3 1-2 0-2 0-3 0-2 1 46-15-3 0-3 0-3 0-3 0-3-1-3 0-3 0-3 0-3-1-3 0-3 0-3 0-3 0-3-1-3 0 51 33-2 0-59-30 56 10-3 0-3 0-3 61-4-60-3 0-3 0-3 0-4 1-28-13-4 1 48 38-2 0-2 0-3 0-2 1-3 0-2 0-3 0-2 0-3 1 12-14-3 0-3 0-3 1-2 0-3 0 6 1-5 0-5 1-5 0-5 0-5 0-5 1"/><path class="p1" d="M1644 627l-2 0-2 0-3 0-2 1-2 0-3 0-2 0-2 0-3 1-2 0-2 0 12-4-4 0-28 65-3 0-2 0-3 1 67 0-2 0-2 0-2 0-3 1-2 0-2 0-3 0-2 1-2 0-3 0"/></g></g><clipPath id="kc10"><rect x="764" y="708" width="127" height="127"/></clipPath><g transform="scale(.5)"><g clip-path="url(#kc10)"><path class="p8" d="M865 807l0 1 0-2 0 2-60 10 0 2 0 3 0 0 0 2-1 0 51-2 0 0 0-2 0-1 1 0 0 0 0 0 0-1 0-2 0-1"/><path class="p5" d="M845 808l0-15-3 9 0-39 0 38 0-1 0-1 0 3 1 5 0-5-12 2 0 1 0 0 0 0 0 4 1-2 0 0 0 1 0-2 0 1 0 1 1-2 0 2 0-1 0 2 0-1 0-35 0 36 1 3 0-1 18-1 0 0 0-2 0-1 0-2-1 5 0-2 0-54 0 52 0 3 0-4 0 1-1-1 0 0 0 0 0 0 0 0-52 22 0 0-1 0 0-3 0 2 0 0 0-7 0-7-1 3 0-1 0-1 0 0 0-2"/><path class="p1" d="M844 807l1 0 0-1 0 1 0 1 0-1 0 1 0-2 1-1 0 1 0-2 0 0-13-4 0 0 0 1 0 3 0-4 0 1 0-4 1-1 0 1-26 3 0 0 0 1 0 1-1 1 0-1 0 0 0 0 0 0 0 0 0 1-1 2 0 0 0 1 0 0 0 0 0 0 0-1-1 1 0-1-3 0 16 2 0 0 0-1 1 1 0-1 0 0-7-3 1 0 0 5-19-1 14-6 0 1 0 0"/><path class="p7" d="M859 810l0 7 1 1 0 1 0 0 0 0"/><path class="p9" d="M857 822l0 0 0 1 0-1"/><path class="p6" d="M862 821l0-3-28-3 0 1 13 6 0 3 0 2 0-1 0-2 0-7 0-7 1-53 0 55 0 11 0-3 0 4 0 4 0-1 1-6 4-8 0-2 0 0 0 0 0 0 0 3 0 2 1-2 0 1 0-1 0 0 0 0 0 1 0-1 17 10 0 1 0 1-1 0 0 2 0-12 0 7 0 0-14-2 0-1-22-18 1 2 0 11 0-1 0 1 0 3 0 7 0-4 1-4 0-1 0 3 0-7 0 3"/><path class="p3" d="M841 809l0 0 0 1 0-1 0 0 0 0-1 0 0-1 0 0 0 1 0 1 24-3-55 0 0 1 0-1 1 0 0 0 0 0 0 1 0 0 0 0 0 0 1-2 0 0 0 0 0 0 0 0 0 0 1 1 0 0 0 1 0 0 16 0 0 1-1 0 0 0 0 1 0 0 0 2 0 0-1-1 0-1 0 0 0 0 0-2 0 0 0 0-1 1 0 1 0 1 0-1 0 0 6 1 7-2 0 0 0 0 0 0 0 0 0 1-16-1 0-1 0 1 0-2 1 0 0 1 0 1 0-1 17-7 16 6 0-1 0 0 0 1 0 0 0 0-1 1 6 1 0-1-30 0 0 0 0 0 0 0 0 1 0-1 0 0-1 0 0-1 0 1 0 0 0 1"/><path class="p2" d="M820 802l0 1 24-2 0 1 17 6 0 0 0 0 0 0 0-2 0 1-1-1 0 0 0 0-52-6 1-1 0 4 0 2 0-2 0 0 0-2 0-2 1-3 0 4 0-3 0 1 0 1 0-1 22 11-1-1 0-1 0-1 0 2 0 1 0-1-39-10 59 12 0 0 0 0-1 0 0 1 0 0 0-1 0 0 0 0 0-2-1 1 0 0 0-2 0 0 0-1 0 1-1 1 0 0 0-1 0 1 12-5-1 1-18 16 0-3 0-2 0-1-1-6 0 1 0-2 0-2 0-1 0 1 0-3-1 2 0-2 0 4 0 1 0-2 0-2-1 0 0 5 0 1-3-5 0-1 0 4 0 0-1 1 0 1 0 2 0 4 0 3 0 0 0 0-1-1 0-2 0 0 0-1 0 3 0 2-1-1-14-7 0 2 0 2 0-6 0-1 0 3 1-5 0 3 0 0 0-5 0 0 0 4 1 2 0 1 0 0 0-4 9-9 1-4 0 0"/><path class="p1" d="M808 797l0 4 0 0 0-5 0 1-3 5 0-2 0-1 0 0 34 8 0 0 1 0 0 0 0-2 0-1 0-1 0 1 0 2 1 0 0-1 0 0 0 0"/><path class="p6" d="M818 818l0 1-1-7-1-2 0 0 0-1 0 4 0 1 0-2 0-2 35 7 0 2 0 0 0-7-1-3 0-16 0-5 0 9 0 4 0 4 13 6 0-3 0 0 0 1-33-29 0 15 0-66 0 53 0 1 1 1"/><path class="p5" d="M841 809l0 0-1 4 19-34 0 3 0 2 0 8 0-3 0 3 0-2 1-63 0 73 0 1 0 9 0-9 0-21 1 27 0-1 0 15-18 7 0-9 0 5-1-9 0 4 0 1 0 0 0 2 0-10-1 0 0 4"/><path class="p7" d="M808 819h0"/><path class="p4" d="M839 801l0 2-1 3 0 0 0 2 0-2 0-1 0 2-1-1 0-2 0 3 0-2 0-1-13 3 0 1-1-1 0 0 0 2 0 1 0 0 0-2 0 1-1-2 0 0 0 0 0 1 0 1 0 1 0 2-1 2 0-1 0 1 0-1-5-3 0-2 0-1 1 1 0 2 0-4 0 0 0 2 0-3 0-2 1 3 0 2 0 0 0-2 0 1 0-1"/><path class="p9" d="M864 822l0 0-1 0 0 1 0 0 0 0 0 0 0 1-3-4 0 1 1-1 0 0 0 0 0 0 0 0 0 0 0-1 1 1 0 0 0 1 0 0 0-1-57 3 0-2-1 0 0 0 0 1 0 1 0 1 0-1 0 0 54 2 0-1 0 1 0-1-1 0 0 2 0-1 0 0 0-3 0-2 0-1-1-1"/><path class="p2" d="M834 807l0 0 15 0 0 0 0 1 0 0 1 0 0 0 0 0 0 1 0 0 0-1 1-1 0 0-62-8 62 9 0 0 0 1 0 1 1 0 0-2 0 1-23 0-38-16 38 14 0 1-1-1 0 0 0-12 0 1 0 1 0 1-1 1 0-7 0-3 0-4 0 2 0 1-1 4 0 0 0 0 0 1 0 0 0-3 0 0-32 10 31-11 0 0 21-2 0 2 0 5 0 3-1-2 0 0 0-4 0 5 0-1 0 3-27 6 11 4 0 1 0-2 0 1 1 0 0 0 0-1 0 1 0 0 0-1 0 0 1 1 0-1 0 0 0-1 0-1 0 0 1 1-41-5 41 7-9 0 0 0 0 0 1-2 0 0 0 1 0 1 7-2 0 2 28-2 0-2 0 4 0-3-69-8 68 7 0-2 0 1-8 6 0-2 0 0 0-2 0-2 0 3 0 2 1-2 0 5 0 1 0 0 0 4"/><path class="p8" d="M829 820l0 1-1 1 0-1 0-1 0 0 0-1 0 0 0-1-1 1 8 0 1 1 0 2 0-1 0-1 0-1 0 0 1 0 0 1 0 0 0-1 0 0 0 0 1-5 1 3 0-1 0 4 0-1 0 1 0 1 1 2 0-1 0-2 0 0 0-4 0 4 23 2 0 3 0 1-18-7 0 0 0 0 1 0 0 1 0-1 0 0 0 0 0-1 1-1 0-1 0 1 0 0 0 0 0 0 0-2 1 0 0 1 0 1 0 0-34 0 0 1 0 1-1 1 0 0 0-1 0 0 0 0 0 1 0 0-1-1"/><path class="p3" d="M830 809l9 0 0 2 0-1 0 1 0-1 0-1-1 0 0 1 0 0 21-1 0 0-21-5 0-1 0 2 0-4 0-1 0 0 1 4 0 1 0-3-6 6 0-1 0 2 0-4 0 0-1 4 0-5 0-1 0 6 0-1 0-1 0 2-1 1 0-1 0-1 0-6 0 0 0 1-1 0 0 2 24-2 0 1-7 4 0 0 0-1 0 0 0 0 1 1 0 0 0-1"/><path class="p1" d="M833 804l-1 2 0 0 0 0 0-1 0 1 0 1 0-1-1 0 0 0 0 0 0 1 0-1 0 0-1-1 0 2 0-1 0 0 0 0 0-2-26 1 0 1 0 0 0 0"/><path class="p4" d="M818 808l0 2 30-14 1 1 0 4 0-2 0 1 0 1 0 1 1-1 0 0 0 1-31 25 0 2 0-8 0 2 1 5"/><path class="p2" d="M841 807l0 0 0 0 0-1-1 0 0 1 0-1 0-1 0 0 0 0 0 2-1 1 0 0 0-1 0 0 0 0 0 2 0-1-1 0 0 0-36-1 0-1-4-8 4 7 46 3 0-1 0 0 1-1 0 0 0 1 0 2 0-2 0 1 1 0 0-1 0 1 0-1 0-2 0 0 0 0 1 1 0 0 0 0 0 0-11 0 0 1 1 2 0-1 0 0 0-1-25 0 0 1 0 0 0 0 0 0-6 1 1 1 0-1 0 0 0 1 0 0 0 0 0 1 1 1 0-1 0-1 0 2 0 0 0 1 0 0 1-1 0 0 0 1 7-3 0 1 0-1 0-2 0-1-1-1 0 1 0 1 0 1-27-12 27 13-1-1 0-1 0 0 0 1"/><path class="p5" d="M798 813l0-3 0 0 0-1 0 2 0-2-1-2 0-4 0-1 31 5 0 2-9-2"/><path class="p3" d="M861 808l1 2 0 0 0-1 0 0 0 0 0 0 1-1 0-1 0 0 0 1 0 0 0 1 0-2 1 1-11 0 0 1 0 1 0 1-1 0 0 1-2-3-21-1 0-1 1 0 0 1 0 0 0-1 0 0 0 0 21 3 0-2 0 2 0-2 0 2-1 0 0 0 0 1 0 0-4-1 0 3 0-1 0 0 0-3 0-2 1 2 0 4 0 1 0 2 0 1 0-2 0 0 1 1 0 0 0 1 0 2 0-4 0 1 0 2-13 1 0-5 0 0 0 0-1-4 0 1 0-2 0-1 0-1 0 4 0-3-1 1 0 0 0 1 0 0 0 1 0 0 0 1-1-4 0-4 22 1 0-1 0-6 0 0 0 2 1 2 0 2 0-1 0 2 0-2 0-3 0 3 1 1 0 1 0 0-24 2 0 0 0 0 0 2 0 0 0 1 0 1 1 0 0-1 0-1 0 1 0 2 0-2 0 1 1 1 0 0 0 0 0-1 0 0"/><path class="p8" d="M856 817l1 1 0 0 0 1 0 0 0 0 0 1-52 1 0 0 0-1 0 0 0-1-1 1 0 0 0-1 0 1 0-1 0 0 29 2 0 0 0 1 6-1 0 1 0 1 1-4-6-28 0 30 0 2 0 1 0-1 1 0 0 1 0 0 0-1 0 0 0-1 0 0 1-1 0-1"/><path class="p7" d="M853 822l0 0 0 0 0-1 0 0 0 0 1-3 0 2 0 2 0-1 0 0 0 2 1 2 0 3 0-2 0-4 0 1 0 2 0-4 1 1-10 1 11-5-1 1 0 0"/><path class="p9" d="M856 818l-25 5 0 0 0-1 0-1 0-1-1 1 0 0 0-2 0 2 0-1 0 0 31 3 0-1 0 2"/><path class="p6" d="M845 812l0-1 1-1 0 1 0-1 0-70 0 72 0 2 1-2 0 2 0-1 0-1 13 4 0 2 0-3-1 4-13-15 0 2-1 2 0 2-10 2 0-1 0-1 0 0 0 2 0-1 0-1 1 0 0 2 0-29 0 27 8 8 0-6 0 7 0 2-1 3 0-7 0-9 0-2 0 5 0 13-1 4 0-6 0 6 0-2 0-3 0 2 0-2-1-4 8-8 0 3 0 1 0 0 0 1 0-1 1 1 0-2 0 4 0 1 0-2 0-1 1 0 0 1 0-5 0-1 0-4 0 0 0 0 1 0-39 0 0-3 1 3"/><path class="p7" d="M801 819l1 0 0-1 0 0 0 1 0 0 0 1 1 1 10-4 0 0 0 0 0 1 0 1 0-1-1 0 0 0 0-2"/><path class="p3" d="M834 810l-7 1 0 0 0 0 1 0 0 1 0-1 0 1 0 0 0-1 1 0 0 0 0 2-11-5 0 1 0 0 0 2-29-11 54 9-13-5 0 0 0 1 1 0 0 1 0 0 0-1 0 0-8 9 0 1 0-4-1 2 0 3 0 1 0-1 0 1 0-3 0-1-1-3 0-6 0-5 0 2 0-1 0-1 0 0-1-2 0 2 0 0 24 4 0 5-17-8 0 2"/><path class="p2" d="M838 809l0-1 0 0 0-2-1-1 0 1 0-2 0 0 10 4 0 0 0 2 1-3 0-1 0 1 0 0 0 1 0-2 0 1 1 1 0-2 0-2 0 3 0 1 0-1-23-1 0 0 21 4-7 0 0-1 0-1-43-15 43 15-1 0 0 0 0-1 0 0 9-4 0-1-28-11 0-2 0 4 0-2 0 8 0 3 0-2-1 5 0-1 0 3 10 2 0 1-1-1 0 0 0-3 0-2-1 1 0 3 0-3 0 0 0 1-1 3 0 2"/><path class="p1" d="M834 801l0 2 0-1 0 1-1 2 0-2 0 0 0 0 0 1 0 0-1 2 0-1 3 0 0 2-46-8 0 1 0 2 0 7-1-1 0-2 0-4 0 0 0 4 0-2 0-1-1-1 0-3 0 2 0 0"/><path class="p4" d="M830 787l0-4 0 1 0 3 0-5 1-6 0 0 0 9 0 8 0 5 0 3 1-5 0-7 0-6 0-1 0 2 0 10 0 7 15 1 1 0 0-1 0 2 0 1 0-1-41 0 0-14"/><path class="p6" d="M837 815l0 0 0-1 0-1 0 2 0-4 0 0 1-3 0 2 0-2 0 0 0 0-3 10-1 10 0-1-28-11 0 2 0-3 0 1 0-3 0-2 0 0-1 2 0 1 0 2 0-1 0 1 0-4-1 1 0-1 0 2 0 1 0 1 0-2 0 0 58 2 0 6 0 6 0-3 0-1 0 2 1-1-13-10-1 2 0 2 5-50 0 51 0 5-26-1 0-5-1-4 0 5 0 3 0 1 0-3 13-13 0 1 6 2 0 2 1-1 0 1 0 0 0 1 0-4 0 0-23-12 0-4 0 2 0-6-1 1 0-2 0 3 0-1 0-6 0 2-6 17"/><path class="p9" d="M825 826l0 1 0 0-12-9 0 0 0-1-1 0 0-4 0 2 45 12 0-2 0 2 0 0-1-2 0-2 0 2 0 0 0 1 0-1"/><path class="p5" d="M833 807l0-1 1-1 0 0 0 2 0-1 0 2 0 0"/><path class="p8" d="M811 816l0 2 1 0 0-1 0 0 0 1 0 0 0 0 29 2 0-1 0 0 0 0 0 1 0-2 1 1 0 1 0 0 0 0 20-4 0-2 0 3-1-1-29 9 0 3 0-88 0 47 1 36 0-2 0-1 0-5 0-35 0 34 0 4 1 0 0 0 0 2 0 0 0 2 0 1 0 1 1 0 0 1 12-3 0-1 0 2 0 1 0-1 0 3 1-4 0-6 0-2 0 3 0-2 0 2 0 1 1 1 0 3-13 3-1 0 0-1 0-1 0-1 0 0 0 0 0 1-10-31 1 31 0 0 0 1 0 3 0-38 0 39 0 0 1 1 0-1 0-1 37-4 0-3-33-17 0-67 0 73 0 1 1 8 0 2 0 1 0 1 0 0 0 1 1 0 10-5 0 0 0 1 0 0-1-1 0 0 0 1 0 0 0-1 0 0 0 0-1 1 0-1 0 0 0 0 0 0 0-1-1 0 0-28 0 29-2 1 0 1 0-1 0-1 0 2-1 0 0 0 0-1"/></g></g><clipPath id="kc12"><rect x="1030" y="708" width="127" height="127"/></clipPath><g transform="scale(.5)"><g clip-path="url(#kc12)"><path class="p6" d="M1119 821l6-3-20-3-5 1-4 6-4 3-2 2 3-1-6-2 14-7-7-7 3-53-4 55-8 11 0-3 9 4 11 4 5-1-10-6 0-8 3-2 6 0 0 0 2 0 2 3 2 2-2-2 0 1 0-1 0 0-2 0 1 1 1-1 10 10 1 1-1 1 12 0-3 2-2-12 1 7 1 0-3-2 1-1-20-18-1 2 0 11 3-1 10 1-4 3-6 7-2-4 8-4-3-1-8 3 2-7 12 3"/><path class="p2" d="M1090 802l-2 1-25-2 3 1 16 6-1 0-1 0 1 0 2-2-3 1-2-1 1 0 0 0-11-6-5-1 8 4-12 2-1-2 5 0-1-2 9-2 2-3 0 4-3-3-5 1-8 1 4-1 16 11 3-1-2-1-1-1 3 2 2 1 2-1 1-10-3 12 0 0-1 0-3 0 0 1-1 0 0-1 0 0 2 0-2-2 1 1-1 0 0-2-3 0 1-1 0 1 1 1-1 0-2-1-1 1-1-5-2 1 20 16-11-3-1-2-7-1 1-6 10 1 0-2-2-2 5-1 3 1-11-3-8 2 10-2 0 4 3 1 3-2-4-2-7 0-2 5-2 1-1-5-1-1 6 4 8 0 1 1 1 1 0 2 0 4 3 3 0 0 1 0-5-1-1-2 3 0 5-1 0 3-6 2-3-1 12-7 9 2-6 2-1-6-1-1-2 3 1-5-4 3 3 0 0-5 0 0 3 4-3 2 5 1 0 0-2-4-7-9 0-4-3 0"/><path class="p5" d="M1100 808l-12-15 8 9-11-39 18 38 4-1-7-1 4 3-11 5 2-5 14 2 2 1 2 0-1 0-2 4-3-2-4 0 0 1-1-2 0 1 3 1 0-2-4 2 5-1 1 2-1-1-9-35 10 36-2 3-1-1-2-1-1 0 0-2-2-1 0-2 3 5 1-2-16-54 15 52-2 3 2-4 0 1 2-1 2 0 2 0 2 0-3 0 23 22-2 0-3 0-7-3 1 2 10 0 10-7-6-7 5 3-5-1-3-1-8 0 6-2"/><path class="p1" d="M1069 807l0 0-2-1 2 1 2 1 2-1-2 1-1-2 3-1 0 1 2-2-1 0 11-4 5 0-1 1-4 3-2-4-8 1-4-4 0-1 9 1-15 3 1 0-4 1-1 1 2 1-1-1 1 0 0 0-2 0 0 0 1 1 3 2 2 0-1 1-2 0 0 0 1 0 1-1 0 1 0-1 1 0 0 2 1 0 2-1-1 1 0-1 0 0-12-3 4 0-12 5 34-1-11-6 0 1-3 0"/><path class="p8" d="M1117 807l3 1-13-2-2 2-2 10-3 2 19 3-13 0-4 2-16 0 13-2 3 0 1-2-1-1-4 0-6 0-3 0 2-1 1-2 1-1"/><path class="p3" d="M1084 809l0 0 2 1-2-1 2 0 0 0-1 0-2-1 2 0-2 1 1 1 11-3-17 0-2 1 3-1 0 0 1 0-1 0-2 1 0 0 2 0 0 0 1-2-1 0 1 0 2 0 2 0 3 0-2 1 0 0-1 1 1 0 1 0-3 1 0 0 0 0 1 1-2 0 2 2-2 0 1-1 3-1-2 0-1 0-1-2-1 0 1 0 0 1-1 1-2 1 0-1-1 0 1 1 5-2 1 0 0 0 1 0-3 0 0 1 8-1 0-1 0 1-2-2-4 0 2 1 1 1-1-1-19-7 29 6 0-1-1 0-1 1-1 0-3 0 3 1-6 1 3-1-4 0 2 0 1 0 2 0 0 1-2-1 2 0 1 0-1-1-1 1 0 0 1 1"/><path class="p9" d="M1079 822l14 0-19 1-1-1"/><path class="p7" d="M1121 810l-12 7 2 1 0 1-3 0 2 0"/><path class="p7" d="M1098 819h0"/><path class="p3" d="M1093 809l-9 0 2 2-1-1 3 1-2-1 1-1-1 0-4 1 1 0 18-1 11 0 2-5 2-1-4 2-6-4 5-1 1 0 5 4-6 1 1-3-32 6-5-1-2 2-2-4 2 0-1 4-2-5 3-1 6 6 8-1-7-1 4 2 3 1 3-1-3-1 1-6 8 0-6 1-4 0 4 2 0-2-3 1-4 4 1 0 1-1 0 0 0 0 0 1 3 0-1-1"/><path class="p4" d="M1093 801l-3 2-3 3 2 0 2 2 3-2-2-1 0 2-1-1-1-2 3 3 1-2 1-1-2 3-1 1 5-1 3 0-1 2 1 1 0 0-5-2-3 1 2-2 2 0-4 0-2 1-1 1 0 1 1 2 3 2-1-1 1 1-2-1 4-3-1-2 2-1 1 1 1 2 1-4 2 0 1 2 2-3 0-2 0 3-1 2-1 0 0-2-1 1-2-1"/><path class="p2" d="M1083 807l1 0-3 0 0 0 3 1-2 0 1 0-1 0 2 0-1 1 0 0 2-1 2-1-1 0 0-8-4 9 1 0 0 1 1 1-1 0-2-2 4 1 1 0 2-16 0 14-4 1 0-1 0 0 25-12 3 1-11 1-6 1 7 1 8-7-10-3 1-4-3 2-9 1 11 4-3 0-5 0 3 1-10 0-6-3-1 0 3 10 1-11 6 0 0-2 1 2 0 5-5 3-5-2-1 0 4-4 9 5-1-1-5 3-18 6 10 4 2 1 1-2 0 1 1 0 0 0 0-1 3 1 0 0 0-1-1 0 4 1 2-1-2 0-2-1 0-1 0 0-1 1-3-5 0 7-3 0 2 0 0 0 0-2 3 0-1 1 3 1-1-2-3 2 3-2-4-2 3 4 0-3 4-8 5 7 7-2-5 1-10 6-4-2-4 0-4-2 9-2 6 3-4 2-6-2-1 5-9 1 8 0 4 4"/><path class="p9" d="M1096 822l-1 0-1 0-1 1-1 0 0 0 6 0 0 1-17-4-3 1-3-1-1 0 2 0 1 0-7 0 4 0-2-1 1 1 3 0 1 1 1 0-3-1-25 3 9-2-2 0 0 0 6 1 3 1-4 1-3-1 2 0 8 2-3-1-1 1 10-1 9 0-25 2 6-1 10 0-5-3-2-2 6-1 22-1"/><path class="p8" d="M1099 820l5 1 1 1 5-1-1-1-7 0-4-1-1 0 0-1-1 1-3 0-2 1 2 2 4-1-1-1-7-1 4 0-2 0-2 1 5 0 0-1 0 0 1 0-7-5 14 3 11-1 1 4-18-1 1 1 9 1 4 2 14-1-2-2-7 0-3-4-5 4-1 2 1 3-22 1 17-7-1 0 0 0 3 0-2 1-3-1 0 0-3 0-1-1-1-1 3-1 1 1-4 0-2 0-2 0 0-2-3 0 4 1 2 1 4 0 2 0 6 1-1 1-1 1 1 0 3-1-2 0-4 0 1 1-6 0-1-1"/><path class="p6" d="M1124 818l-2 1-6-7 1-2 3 0-1-1-2 4 1 1-2-2 2-2 13 7 3 2 1 0-4-7 5-3-3-16-5-5 4 9-10 4 6 4-7 6-3-3 1 0-1 1 9-29-6 15-19-66 15 53 2 1 9 1"/><path class="p5" d="M1114 809l2 0-1 4 9-34 0 3 0 2 3 8-3-3-8 3-8-2-24-63 24 73-1 1 2 9-3-9-10-21 4 27 4-1 3 15-4 7 7-9-1 5 5-9 8 4-6 1 0 0-11 2-1-10-4 0 1 4"/><path class="p1" d="M1090 797l-6 4 7 0 6-5 2 1-32 5-1-2-1-1 2 0-3 8 0 0 0 0-1 0 0-2 1-1 0-1-1 1-1 2 0 0 0-1 4 0 1 0"/><path class="p1" d="M1066 804l1 2 0 0-1 0 2-1-1 1 3 1 1-1-2 0-1 0 0 0-2 1 0-1-1 0-1-1 4 2-4-1-2 0-1 0-2-2 1 1 1 1 3 0 1 0"/><path class="p7" d="M1084 822l11 0 2 0 2-1 4 0-6 0 10-3-10 2 7 2 9-1 0 0 5 2 10 2-11 3-7-2-1-4 3 1-8 2-4-4-13 1 8 1 11-5-2 1-2 0"/><path class="p8" d="M1111 817l-2 1 1 0-2 1 3 0 1 0 3 1-18 1-1 0-1-1 0 0 4-1-3 1 0 0 1-1-5 1 0-1 3 0 8 2-5 0-1 1-1-1-2 1-2 1 5-4 8-28-4 30 3 2-4 1 3-1 1 0 0 1 3 0-3-1 5 0 3-1-4 0 4-1-2-1"/><path class="p4" d="M1099 808l-1 2-5-14 1 1 0 4 2-2-1 1-1 1-1 1 1-1-1 0 3 1 5 25-7 2 2-8-6 2 7 5"/><path class="p6" d="M1124 812l-1-1 0-1-2 1-3-1-34-70 31 72 0 2-2-2 2 2-1-1 1-1 4 4-2 2 2-3 0 4-9-15-4 2 0 2-2 2-3 2 0-1 0-1-4 0 0 2-2-1 5-1 2 0 3 2-19-29 18 27 9 8-5-6-3 7-2 2-4 3 0-7 4-9 2-2 1 5 0 13-8 4-4-6-7 6 10-2-1-3-3 2 7-2-2-4 10-8 0 3-2 1 0 0-2 1 2-1 0 1 4-2-2 4-1 1-3-2-2-1 3 0 2 1-5-5 3-1-1-4 0 0 5 0-2 0-1 0-5-3 5 3"/><path class="p5" d="M1102 813l-2-3 1 0 2-1-5 2 2-2-3-2-1-4 2-1 0 5 1 2-5-2"/><path class="p2" d="M1080 807l1 0 0 0-1-1-1 0 1 1-1-1 3-1 1 0 0 0 0 2 3 1 0 0 0-1-2 0 1 0-1 2-3-1 1 0-1 0 0-1 0-1-1-8 1 7-1 3 0-1 0 0 1-1-2 0 0 1 2 2 0-2 3 1 1 0-1-1-2 1 0-1 3-2-1 0-2 0 1 1-1 0-4 0 2 0-1 0-2 1 8 2-1-1 1 0-2-1-4 0 1 1 1 0 0 0 2 0-5 1 2 1-2-1-2 0 0 1 0 0 3 0-2 1 0 1 0-1 0-1 3 2 1 0 1 1-2 0 0-1 1 0 0 1 0-3 0 1 1-1 0-2 2-1-1-1 3 1 3 1-3 1-1-12 0 13-4-1 1-1-1 0-1 1"/><path class="p3" d="M1086 808l2 2 0 0-1-1-1 0 1 0 2 0 0-1 1-1 0 0-1 1-3 0 0 1 2-2 0 1-4 0 2 1 1 1-1 1 1 0 1 1-2-3-3-1 1-1 0 0 2 1-1 0-2-1 0 0 0 0-2 3 1-2-1 2 2-2 3 2 0 0 0 0 0 1-1 0-5-1-1 3 6-1 1 0 5-3-5-2 1 2 6 4-3 1-6 2 0 1 4-2-5 0 5 1-8 0 7 1 1 2-7-4 4 1-2 2 5 1-4-5-5 0-2 0-4-4 2 1 7-2-6-1 12-1-3 4-1-3 0 1-3 0-3 1 3 0-7 1-2 0 5 1 1-4 0-4-7 1-5-1 9-6-5 0-9 2-5 2 1 2-4-1-1 2 2-2 11-3 8 3-1 1-1 1-6 0 27 2-1 0 0 0 0 2-1 0 2 1 0 1-2 0 1-1 0-1-1 1 1 2 1-2-2 1 4 1 2 0-3 0-2-1-2 0"/><path class="p9" d="M1099 818l-23 5 1 0 4-1 8-1-5-1-1 1 1 0-7-2-2 2 3-1-4 0 12 3-8-1 7 2"/><path class="p7" d="M1105 819l0 0-1-1 4 0 0 1-1 0 0 1 2 1-6-4 1 0 0 0 2 1 2 1 2-1-3 0 1 0-3-2"/><path class="p3" d="M1089 810l4 1-1 0 0 0 1 0 1 1 0-1-2 1 0 0-2-1-17 0 1 0 2 2 9-5 0 1 0 0-10 2 8-11-3 9 11-5-1 0-1 1 1 0-1 1-2 0 0-1-2 0-9 9-3 1 6-4 3 2 10 3-5 1 0-1 3 1 2-3-6-1 0-3 0-6 0-5 5 2-5-1 2-1-7 0 2-2-3 2 1 0 5 4-7 5-6-8 4 2"/><path class="p4" d="M1099 787l-7-4 0 1 2 3 2-5 4-6-7 0 10 9-10 8 2 5 10 3-5-5-1-7 0-6-6-1-7 2 0 10-7 7 13 1 0 0 2-1 2 2 0 1-2-1-13 0-2-14"/><path class="p9" d="M1081 826l3 1-4 0-27-9 2 0 0-1-2 0 27-4 9 2-29 12-7-2 13 2 10 0-7-2 9-2 7 2-9 0-3 1-6-1"/><path class="p8" d="M1109 816l-2 2 0 0 0-1 3 0 1 1 2 0-5 0-16 2 4-1-5 0 2 0 3 1-3-2 1 1-3 1 1 0-5 0-24-4 10-2 11 3-11-1 39 9 9 3-18-88-12 47 34 36 11-2-11-1-7-5-23-35 17 34-2 4 6 0 7 0-13 2-26 0 1 2 4 1 7 1-4 0 8 1 1-3-11-1-6 2 0 1 10-1-15 3 13-4 12-6 4-2-10 3 1-2-17 2-5 1 5 1 7 3 8 3 1 0-2-1 2-1 0-1 0 0 0 0-1 1 5-31-8 31-6 0 15 1 4 3-3-38-13 39 3 0-5 1 0-1 5-1 3-4 4-3 4-17-17-67 16 73 0 1 0 8-3 2 4 1-5 1-5 0-3 1 2 0 9-5 1 0-7 1-4 0-4-1-6 0 2 1 1 0 0-1 2 0 0 0 2 1-1-1 3 0 2 0 1 0 2-1-7 0 0-28-1 29 2 1-1 1 0-1 0-1 1 2-1 0 0 0 7-1"/><path class="p1" d="M1070 801l0 2 2-1-1 1-1 2-1-2-2 0-1 0 1 1 0 0-2 2 1-1-1 0 0 2 4-8-2 1 2 2-6 7 4-1 2-2-1-4-3 0 0 4 0-2-3-1-6-1-3-3 8 2-2 0"/><path class="p2" d="M1078 809l0-1 1 0-1-2-2-1 0 1 3-2 1 0-7 4 2 0 0 2 0-3-1-1-1 1-1 0 2 1 0-2-2 1-1 1 1-2 0-2 2 3 4 1 0-1 2-1 1 0-2 4 3 0 1-1-2-1-1-15 1 15-2 0 3 0-2-1 0 0 4-4 2-1-10-11-1-2-2 4 0-2-3 8 8 3-4-2-9 5 9-1 0 3 7 2-10 1 3-1 4 0 2-3-1-2 4 1 0 3-2-3 8 0 3 1 10 3 7 2"/><path class="p5" d="M1100 807l0-1 6-1 1 0 3 2 1-1 0 2-2 0"/><path class="p6" d="M1118 815l1 0 0-1 1-1 2 2 0-4 1 0-1-3-4 2-1-2 1 0 0 0-32 10-13 10-4-1 47-11-3 2 0-3-3 1 0-3 1-2 1 0 1 2-3 1 3 2 1-1 2 1 1-4 0 1 0-1 0 2-1 1 1 1-1-2-1 0 18 2 3 6-12 6-7-3-2-1 2 2-1-1-6-10 3 2 2 2-9-50-2 51 5 5-37-1-7-5 5-4 0 5 4 3-1 1 9-3 25-13-1 1-7 2 4 2 3-1 2 1 3 0 2 1 5-4-4 0-3-12 3-4-9 2 3-6 14 1-7-2-1 3-2-1 8-6-5 2-1 17"/></g></g><clipPath id="kc13"><rect x="1163" y="708" width="127" height="127"/></clipPath><g transform="scale(.5)"><g clip-path="url(#kc13)"><path class="p7" d="M1236 810l1 7-2 1 2 1-1 0 0 0"/><path class="p9" d="M1231 822l-1 0-2 1-2-1"/><path class="p1" d="M1250 807l2 0-2-1 0 1 0 1 0-1 0 1-1-2-2-1-1 1 0-2 2 0-12-4-2 0-6 1 9 3 1-4-2 1 2-4 0-1 5 1 10 3-2 0-1 1 1 1-1 1 2-1 2 0-1 0-2 0-2 0 0 1 1 2-2 0 3 1-1 0 1 0-2 0 4-1 1 1-1-1-1 0-2 2 0 0 0-1 2 1 0-1 3 0-5-3 10 0-4 5-17-1 5-6-2 1 2 0"/><path class="p2" d="M1237 802l2 1 10-2-8 1 5 6-2 0-2 0 1 0 4-2 0 1 0-1 0 0-3 0 4-6 3-1-5 4 0 2-1-2 12 0-2-2 10-2 0-3 4 4-8-3-3 1-10 1 7-1-4 11-4-1 0-1 2-1 0 2-2 1 0-1-58-10 64 12-4 0 0 0 2 0 2 1-1 0 3-1 0 0-2 0-1-2 0 1-1 0 0-2 2 0 1-1-1 1 1 1 0 0 2-1-2 1-25-5-1 1-3 16 1-3-12-2 0-1 5-6 5 1-1-2-2-2 4-1-3 1 3-3-6 2-1-2 9 4 13 1 4-2-2-2 1 0 0 5-14 1 9-5-1-1-2 4-3 0-12 1 3 1 5 2 8 4 9 3 2 0-5 0 1-1 10-2 10 0 5-1-10 3-5 2-1-1-8-7 4 2 3 2-13-6 0-1 1 3-3-5 2 3 4 0-2-5-1 0 13 4-9 2-9 1-4 0-8-4-3-9-2-4-4 0"/><path class="p6" d="M1235 821l1-3 7-3-5 1 11 6-6 3 2 2 4-1-3-2-3-7 6-7-14-53 12 55 3 11 1-3 2 4 9 4-4-1-6-6-13-8 1-2 0 0-1 0 3 0-1 3-2 2 1-2 0 1 1-1 1 0-2 0-3 1-1-1-10 10-5 1 1 1-1 0 1 2-1-12-5 7 1 0 10-2 0-1-4-18 4 2-2 11 2-1-1 1 2 3 1 7-2-4 8-4-3-1 3 3-1-7 7 3"/><path class="p5" d="M1239 808l-4-15 21 9-19-39 12 38-2-1-2-1 1 3-3 5-5-5 3 2-2 1-1 0 0 0-1 4 0-2-2 0 0 1 1-2 1 1 1 1 2-2-3 2 2-1 2 2 0-1-5-35 3 36 0 3 1-1 1-1 0 0-1-2-1-1-1-2 2 5 0-2 2-54-2 52 0 3 0-4-2 1-2-1-3 0 0 0 2 0-2 0 4 22 3 0-5 0-13-3 0 2-1 0 0-7 0-7 5 3 2-1-10-1 2 0 3-2"/><path class="p3" d="M1245 809l0 0 0 1 6-1-3 0 3 0-4 0 4-1-4 0-3 1-3 1 8-3-15 0-1 1-3-1-5 0-2 0 8 0 0 1 1 0 1 0 0 0-1-2 6 0-3 0-1 0-2 0 4 0 2 1 0 0 3 1 1 0 2 0-6 1-1 0 1 0-5 1 1 0 0 2-3 0-2-1-3-1 1 0 2 0 1-2 3 0-1 0 0 1 1 1 3 1 4-1 1 0 2 1 7-2-2 0-3 0-3 0 0 0 2 1-10-1 3-1 1 1 3-2-2 0-6 1-1 1 1-1 27-7-22 6-2-1 2 0-3 1-1 0 2 0 3 1-24 1 2-1 16 0 4 0-2 0 1 0 4 1 1-1-2 0 2 0-1-1 3 1 2 0-1 1"/><path class="p8" d="M1234 807l-3 1 1-2 4 2-7 10 2 2 4 3-5 0-1 2 8 0-4-2-2 0 1-2 2-1 0 0-1 0 0 0 0-1 3-2 0-1"/><path class="p4" d="M1227 801l-3 2 3 3 7 0 0 2 4-2-25-1 22 2-4-1 3-2 0 3 1-2-8-1 1 3-6 1-2-1-5 0 3 2-4 1-6 0-8-2 6 1 5-2 7 0 0 0 0 1 1 1 1 1 5 2-1 2 0-1-3 1 1-1-5-3 1-2-1-1 1 1 6 2 2-4 1 0-4 2-4-3 7-2-4 3-3 2 2 0 0-2-7 1 0-1"/><path class="p7" d="M1242 819h0"/><path class="p1" d="M1250 797l4 4 4 0 6-5-9 1-3 5-1-2 2-1-1 0-4 8-1 0-1 0 0 0 0-2 1-1 1-1 0 1 0 2 0 0 1-1-1 0 0 0"/><path class="p8" d="M1237 820l0 1-2 1-2-1 1-1-1 0-3-1 3 0 2-1-3 1 3 0 0 1-1 2 2-1-1-1-2-1-1 0 0 0-1 1-1 0 0-1 2 0 1 0-12-5-3 3-3-1-3 4-1-1 2 1 3 1 4 2 5-1 2-2 1 0-1-4 0 4 7 2 3 3 7 1-9-7 2 0-1 0 2 0-2 1-2-1-1 0 0 0 1-1 0-1 0-1-1 1 0 0-1 0 2 0-1-2 0 0-3 1 0 1-1 0 0 0 3 1-2 1 0 1 3 0 0-1-3 0-2 0 1 1-2 0 0-1"/><path class="p9" d="M1229 822l1 0 0 0 0 1 1 0 0 0 0 0 0 1 1-4 0 1-1-1 0 0 1 0 0 0-1 0-1 0 0-1 0 1 1 0 1 1-1 0 0-1 8 3-2-2 0 0-2 0 1 1 0 1-1 1-1-1 0 0-2 2 1-1-2 1-2-1 1 0-1 2 2-1 0 0 2-3 0-2-2-1 1-1"/><path class="p6" d="M1241 818l-1 1-3-7 0-2 2 0 0-1-1 4 2 1-1-2-3-2 26 7-6 2-1 0 4-7-7-3 4-16 8-5 4 9-4 4 4 4-31 6 2-3 0 0 1 1-12-29 3 15 6-66 2 53-6 1 1 1"/><path class="p2" d="M1245 807l2 0 2 0-2 0 3 1 0 0 0 0-6 0-2 0-4 1 4 0 0-1 3-1-1 0-38-8 39 9-2 0 0 1 0 1 2 0-1-2 2 1-1 0-58-16 59 14-1 1 0-1-2 0-6-12-5 1 13 1-4 1 11 1 4-7 0-3-4-4 4 2-5 1-12 4-9 0 10 0-3 1 2 0 8-3-4 0-56 10 62-11 5 0-3-2-1 2 1 5 3 3-10-2 3 0 5-4-5 5 6-1 4 3-27 6 5 4 2 1 0-2 0 1-1 0-1 0 2-1 0 1-1 0 1-1-1 0 1 1-1-1 2 0 2-1 2-1 3 0 0 1-38-5 34 7 2 0-1 0 0 0-2-2 0 0 5 1 1 1 9-2 2 2-9-2 5-2-7 4 1-3-53-8 52 7 8-2-3 1 15 6 3-2-1 0-5-2-5-2-7 3 3 2 10-2-5 5-9 1-3 0 3 4"/><path class="p3" d="M1246 809l0 0 6 2 6-1-3 1-4-1-1-1 2 0-1 1 1 0-8-1-6 0 3-5-11-1 13 2 23-4 2-1 2 0-3 4-11 1-7-3-14 6 0-1 10 2-7-4-14 0 16 4 5-5-11-1-25 6 26-1-8-1 2 2-31 1 29-1-10-1 4-6-11 0-18 1 35 0-7 2-12-2 15 1 19 4 1 0-6-1-50 0 50 0 2 1 3 0 1-1"/><path class="p5" d="M1240 809l-1 0-1 4-8-34 6 3 6 2-10 8-5-3-2 3 4-2 6-63 3 73 7 1 1 9 5-9-16-21 10 27 8-1-1 15-17 7-2-9 2 5 0-9-1 4 2 1-11 0 3 2 8-10 0 0-1 4"/><path class="p5" d="M1239 813l0-3 1 0 1-1-1 2 0-2-2-2 0-4-1-1-2 5 1 2 2-2"/><path class="p9" d="M1232 818l-2 5-1 0-1-1 1-1 0-1-1 1 1 0 0-2 0 2 0-1 1 0 3 3-1-1 0 2"/><path class="p4" d="M1223 808l1 2 5-14-1 1 5 4-1-2-4 1 0 1 5 1 0-1 0 0-5 1-31 25-7 2 11-8-9 2 1 5"/><path class="p8" d="M1235 817l-1 1 2 0-1 1 0 0-1 0 1 1 0 1 0 0-1-1 1 0 0-1 2 1 0 0 0-1 0 1-2-1-2 0-5 2 4 0 0 1 4-1 0 1 0 1-5-4 2-28-5 30 0 2 1 1 3-1-2 0-1 1 1 0 0-1 0 0 1-1-1 0 0-1 1-1"/><path class="p6" d="M1239 812l0-1 1-1-1 1-2-1 2-70-4 72 0 2 0-2 2 2 0-1 2-1-5 4-3 2 0-3 1 4 6-15-3 2-1 2 1 2 0 2-2-1-2-1 0 0 0 2 0-1 1-1 0 0 3 2 5-29-3 27 13 8-3-6-7 7-5 2 1 3 1-7 2-9 1-2 6 5 0 13-1 4 3-6 1 6-6-2 5-3 2 2-1-2-2-4-7-8 1 3-1 1 0 0-2 1 0-1 1 1 0-2 1 4-1 1-2-2 0-1 1 0 1 1-3-5-1-1-1-4 0 0 1 0 2 0-1 0 0-3 0 3"/><path class="p3" d="M1238 808l3 2-4 0 4-1 1 0-2 0-2 0 2-1-3-1 7 0 1 1 2 0 1 1 0-2-1 1-11 0-3 1 0 1 5 1-1 0 1 1 5-3 7-1 1-1-2 0 0 1-5 0 0-1-3 0-35 0 37 3-4-2-1 2 1-2 1 2 0 0 1 0 2 1-3 0-55-1 77 3-11-1 14 0 4-3 2-2-9 2 4 4 1 1-4 2-69 1 70-2 6 0-10 1-4 0-2 1 1 2-1-4 2 1-6 2 8 1-12-5 6 0 3 0 5-4-4 1 6-2-3-1 1-1-11 4 8-3 6 1 2 0 5 1-5 0-5 1-2 0 7 1-6-4 4-4-12 1 2-1 7-6 2 0 7 2 0 2-68 2 61-1-4 2 5-2-3-3-62 3 45 1-6 1 8 0-3 2-53 0 43 0 3 2 3 0 1 1-1 1-5 0 1-1-2-1-1 1-1 2-3-2 5 1 4 1-3 0 0 0-3-1-5 0"/><path class="p1" d="M1254 804l-1 2 1 0 1 0 2-1-2 1-1 1-1-1-1 0-1 0-1 0 1 1 2-1-1 0 4-1-3 2-1-1 0 0 0 0 1-2-1 1 0 1 1 0-1 0"/><path class="p7" d="M1240 822l-2 0 0 0-2-1-2 0-1 0 5-3 1 2-1 2 1-1-5 0 0 2 3 2 2 3 2-2-3-4 0 1-3 2 2-4 1 1 1 1-9-5 1 1 0 0"/><path class="p2" d="M1245 807l-1 0-4 0 2-1 1 0 2 1 1-1-2-1 1 0 1 0 0 2 6 1 0 0-3-1-2 0 2 0-2 2-3-1-1 0 0 0-1-1-2-1-38-8 36 7 3 3-2-1 1 0-3-1 0 0 0 1 1 2 3-2-3 1-2 0 1-1 2 1 0-1 0-2 0 0 0 0 1 1 2 0 2 0 3 0 1 0 3 1-5 2 2-1-1 0 4-1-7 0 1 1 0 0-1 0 2 0 4 1 1 1 1-1-1 0-3 1-2 0-1 0 2 1-3 1-1-1-4-1 2 2-1 0 0 1 2 0 1-1 2 0 0 1-4-3 3 1 1-1 0-2 1-1-3-1 1 1-3 1-3 1-30-12 33 13 0-1-1-1-2 0-2 1"/><path class="p7" d="M1232 819l-1 0 1-1 0 0 0 1 0 0 1 1-1 1 5-4-1 0-1 0 1 1 1 1 0-1 0 0 1 0 1-2"/><path class="p3" d="M1224 810l3 1-1 0 2 0-2 0 2 1-2-1 4 1 5 0-5-1 29 0 1 0-6 2-4-5-4 1 2 0 4 2-55-11 46 9-10-5 2 0 6 1-2 0 0 1 0 0-2-1 1 0 25 9 3 1 0-4-3 2-7 3-4 1-13-1 4 1 13-3 8-1 0-3 0-6-26-5-1 2-7-1 13-1-1 0-2-2-6 2-7 0-5 4 8 5-46-8 18 2"/><path class="p9" d="M1228 826l-1 1 2 0-1-9 1 0-1-1 0 0-2-4 1 2 7 12-4-2 1 2 2 0 0-2-1-2-4 2-1 0 4 1 0-1"/><path class="p6" d="M1233 815l2 0 1-1 0-1-3 2 2-4 3 0 1-3 0 2 2-2-2 0 1 0 19 10-4 10 3-1-24-11 0 2-1-3-1 1-2-3 2-2 1 0 1 2 1 1-1 2-1-1-2 1 1-4 1 1 2-1 1 2 1 1 1 1-2-2-1 0-9 2 2 6 4 6 3-3-5-1 10 2-1-1-7-10 0 2 1 2 8-50-13 51-3 5 9-1 3-5-5-4-6 5 5 3 4 1-2-3-2-13-2 1 7 2 0 2-2-1 1 1 0 0 0 1-1-4 2 0-12-12 0-4-2 2 1-6 4 1 6-2-2 3 1-1 9-6-1 2-4 17"/><path class="p4" d="M1229 787l6-4-1 1 3 3 3-5-16-6-6 0 29 9 8 8-1 5 2 3 12-5-7-7 1-6 5-1 2 2-18 10-12 7-15 1 4 0-2-1-6 2 2 1-5-1-22 0 7-14"/><path class="p5" d="M1238 807l0-1 1-1 2 0 0 2-3-1-1 2 1 0"/><path class="p8" d="M1237 816l-1 2-1 0 2-1 0 0 1 1-1 0 0 0-5 2 0-1 1 0 0 0-1 1 2-2 0 1-1 1 1 0-1 0-13-4-2-2 0 3-1-1 19 9 7 3-4-88-6 47 18 36-5-2 2-1-5-5-2-35 11 34-1 4-2 0 2 0-1 2 2 0-1 2 0 1-8 1 4 0-5 1 8-3 2-1-6 2-1 1 8-1-2 3 0-4-5-6 7-2-9 3 5-2 1 2 2 1-8 1-6 3 0 3-2 0 0-1 1-1 1-1 0 0-1 0-1 1 5-31-8 31-4 0-3 1 6 3 9-38-18 39-5 0-1 1 2-1-9-1 6-4 10-3 19-17-11-67 12 73-1 1-8 8 0 2 1 1-3 1-1 0 1 1 0 0-1-5-1 0-1 1-3 0-3-1-2 0 5 1 0 0 0-1-1 0 1 0-1 1 4-1-1 0 1 0 1 0 1-1-1 0 4-28-5 29 2 1-2 1-1-1-2-1-1 2 1 0 1 0-3-1"/><path class="p2" d="M1248 809l1-1-3 0 0-2 0-1 3 1-1-2 0 0 0 4 0 0 1 2 3-3 2-1-1 1-5 0-1 1 1-2-1 1-4 1-2-2 1-2 0 3 3 1 2-1 0-1 1 0 1 4-10 0-2-1 2-1-40-15 37 15 2 0-1 0 0-1 2 0 1-4 1-1 9-11 11-2-3 4 5-2-9 8-1 3-1-2 6 5 6-1 0 3-34 2-3 1-6-1 2 0-6-3-9-2 43 1-7 3 5-3 10 0 5 1 1 3-6 2"/><path class="p1" d="M1251 801l1 2-2-1-2 1 0 2 0-2-2 0 2 0 0 1 2 0 0 2 1-1-2 0 2 2-26-8 6 1 5 2 7 7 0-1-1-2 6-4-7 0 5 4 2-2 3-1-1-1-1-3 1 2 4 0"/></g></g><clipPath id="kc14"><rect x="1296" y="708" width="127" height="127"/></clipPath><g transform="scale(.5)"><g clip-path="url(#kc14)"><path class="p3" d="M1335 809l3 0-1 1 0-1 3 0 0 0-2 0-2-1 1 0-1 1 2 1 6-3-18 0 1 1-4-1 6 0-1 0 2 0 0 1-2 0-3 0 0 0 4-2 0 0 5 0-3 0 0 0-1 0-1 1 0 0-1 1 1 0 1 0 0 1 2 0-1 0 0 1 0 0 3 2 0 0 1-1 0-1 1 0-2 0-3-2-1 0-1 0 0 1 0 1 4 1 1-1 1 0-4 1 10-2-4 0 1 0-1 0 3 0 0 1-2-1 2-1 1 1 3-2 2 0 2 1 0 1-2-1-30-7 15 6 3-1-2 0 2 1 0 0-1 0-2 1 3 1 1-1 3 0-3 0-1 0 2 0 0 1 3-1 1 0-2 0-3-1-3 1 2 0 0 1"/><path class="p9" d="M1318 822l-1 0-1 1-1-1"/><path class="p8" d="M1320 807l-2 1-1-2-3 2-7 10 2 2 0 3 3 0 0 2 1 0 2-2 0 0 0-2 1-1 1 0 1 0 0 0-1-1 2-2 0-1"/><path class="p1" d="M1326 807l0 0 0-1 0 1 0 1-1-1 0 1 0-2 0-1 1 1 0-2 0 0 5-4-2 0 0 1 1 3-3-4 1 1 0-4-1-1-1 1 3 3 1 0-1 1 0 1 1 1 1-1-1 0 0 0-1 0-2 0 0 1 0 2 1 0 0 1 0 0-1 0 1 0-1-1 2 1 0-1-1 0 0 2 0 0-1-1 1 1 1-1-2 0 0-3 3 0-5 5 6-1-6-6 0 1 0 0"/><path class="p6" d="M1317 821l-7-3-2-3 2 1-3 6 1 3 2 2 0-1 1-2 0-7 1-7 1-53-5 55 7 11 3-3 1 4 0 4-2-1 0-6-1-8 0-2 0 0 1 0 0 0 0 3 1 2 0-2 1 1-1-1 1 0-1 0 0 1-1-1 3 10 0 1-4 1 3 0 4 2 1-12-3 7-2 0-10-2 3-1 11-18-1 2-5 11 5-1-1 1 5 3-1 7-1-4-2-4-5-1 0 3 2-7-1 3"/><path class="p7" d="M1323 810l-7 7 0 1 0 1-2 0 0 0"/><path class="p2" d="M1327 802l1 1 1-2 0 1-1 6 0 0 0 0-1 0 2-2 0 1 1-1 0 0-1 0-10-6-5-1-3 4 3 2 2-2-1 0-1-2 0-2 3-3-2 4 0-3 5 1 0 1-5-1 12 11 0-1 0-1-2-1 1 2 0 1 1-1 59-10-51 12-1 0 1 0-2 0-1 1-2 0-2-1-1 0 0 0 2-2 0 1-2 0-1-2 0 0-1-1 0 1-1 1 2 0-1-1-1 1-3-5 4 1 9 16-1-3-3-2-1-1-5-6-1 1 0-2-7-2 0-1-1 1-4-3-1 2 0-2 0 4-3 1 6-2 5-2 6 0-3 5 1 1 2-5 4-1 1 4 5 0-7 1 4 1 0 2 5 4 2 3 0 0-5 0 4-1-2-2-1 0 7-1-9 3-1 2-5-1-7-7-4 2 3 2 8-6-2-1 4 3 5-5-2 3-2 0 2-5 0 0 2 4-1 2-4 1 0 0 5-4 0-9 1-4-1 0"/><path class="p5" d="M1316 808l1-15-2 9-3-39-1 38 2-1-3-1 1 3-2 5-2-5 13 2 0 1 0 0 0 0-2 4 0-2 0 0 0 1 0-2 0 1 1 1 0-2 0 2 0-1 0 2 0-1-7-35 5 36 0 3 0-1-1-1-1 0-1-2 1-1 0-2-1 5 1-2 0-54 2 52-1 3 2-4 0 1 0-1 1 0 0 0 1 0-1 0-5 22 3 0 1 0 0-3 1 2 0 0 0-7-3-7 0 3-3-1-4-1 1 0 0-2"/><path class="p8" d="M1312 820l-1 1 1 1-1-1 0-1 1 0-1-1 1 0-1-1 1 1 6 0 0 1-2 2-1-1 1-1 0-1-1 0-1 0 0 1-1 0 2-1 1 0 0 0 1-5-1 3-2-1 2 4-2-1 0 1 2 1-3 2-2-1 4-2-1 0 0-4 2 4 3 2-4 3-2 1 2-7 1 0 0 0-3 0 0 1 1-1 0 0 3 0 0-1 1-1 0-1 0 1 0 0 0 0 0 0-1-2-1 0 0 1 1 1-1 0 0 0 0 1-1 1 1 1 0 0-1-1 1 0 0 0-1 1 0 0 0-1"/><path class="p2" d="M1326 807l1 0-3 0 1 0 0 1 2 0 0 0 0 0-1 0-1 1 1 0 0-1 0-1 0 0 65-8-64 9 0 0 1 1-1 1 0 0 1-2 1 1-1 0 67-16-69 14 0 1 1-1 0 0-6-12 0 1 3 1-5 1-1 1 3-7 1-3-5-4-1 2-1 1 3 4 4 0-3 0-5 1 2 0 2-3 1 0 87 10-81-11-1 0-4-2 1 2 2 5-3 3-1-2 2 0 7-4 8 5 1-1-3 3-26 6 17 4 0 1-1-2 1 1-1 0-1 0 1-1-1 1 1 0 0-1 0 0-1 1 0-1-2 0 1-1 2-1 1 0 0 1 78-5-78 7-1 0-2 0 1 0 0-2-1 0 2 1-2 1 8-2-8 2 2-2 0-2-6 4 0-3 75-8-73 7-1-2 0 1-1 6-1-2 7 0 5-2-1-2 3 3 3 2 6-2-7 5-8 1 0 0-4 4"/><path class="p1" d="M1330 797l0 4 0 0-1-5-1 1-5 5 0-2 0-1-1 0 2 8 0 0 1 0 0 0-1-2 0-1-1-1-1 1 1 2-1 0 0-1-1 0 1 0"/><path class="p6" d="M1319 818l0 1-1-7-1-2 0 0 1-1 0 4-1 1 1-2 0-2-6 7 1 2-1 0-2-7 3-3 0-16-2-5-3 9-1 4 1 4 9 6-1-3 0 0 1 1-3-29 3 15-1-66-3 53 6 1 2 1"/><path class="p5" d="M1314 809l0 0 2 4 7-34 0 3-2 2 3 8-1-3 2 3-4-2-5-63 0 73 3 1-3 9 2-9-5-21 7 27 1-1 2 15-15 7 1-9 0 5 0-9 3 4-1 1-3 0-1 2 0-10 4 0 2 4"/><path class="p4" d="M1325 801l0 2-3 3 3 0 0 2 1-2 0-1 1 2-2-1-1-2 2 3 3-2 0-1-7 3 1 1-2-1-1 0-1 2-1 1 0 0 3-2-2 1-1-2 1 0-1 0 1 1 1 1 0 1 2 2 1 2 3-1 0 1-1-1-2-3-1-2-3-1 2 1-1 2-1-4 2 0-1 2 3-3 2-2 0 3 1 2-1 0 1-2-1 1 1-1"/><path class="p3" d="M1335 809l-4 0 1 2-2-1 1 1-1-1 4-1-3 0 1 1 2 0 24-1 8 0-15-5-7-1-1 2 11-4-6-1-12 0 3 4 3 1 7-3-25 6 6-1-4 2-3-4-9 0 12 4-8-5 4-1-2 6-1-1 5-1-3 2 0 1-5-1 1-1-1-6 11 0 2 1-9 0-7 2 2-2-3 1 22 4 0 0-1-1 3 0-2 0 2 1-4 0-2-1"/><path class="p7" d="M1309 819h0"/><path class="p9" d="M1323 822l-1 0 1 0-1 1 1 0 0 0 0 0 1 1-5-4 1 1 0-1 1 0-1 0 0 0 0 0 0 0 0-1-1 1 0 0 1 1 0 0 0-1 3 3 0-2-1 0 1 0 1 1 1 1-2 1 1-1-2 0-5 2-3-1 1 1-1-1 0 0 1 2 1-1-4 0 2-3 1-2 2-1-2-1"/><path class="p7" d="M1315 822l1 0 4 0-1-1-1 0-1 0 3-3-1 2 2 2-1-1 0 0-1 2-3 2-2 3 0-2 1-4 3 1 2 2 4-4-1 1-2 1-7-5 0 1 0 0"/><path class="p3" d="M1331 808l2 2-1 0 0-1 0 0-2 0-1 0 1-1 1-1 1 0 5 1 4 0-1 1-1-2 0 1-1 0 0 1 4 1-1 1-1 0-2 1 1-3-5-1 1-1-4 0-3 1-1 0 0-1-1 0 2 0-3 3 2-2 0 2 1-2 3 2-2 0 1 0-1 1 0 0 12-1 1 3 6-1 2 0-4-3-3-2-2 2 0 4-3 1-12 2 11 1-1-2-7 0-2 1 10 0 11 1 11 2-1-4-5 1-9 2-2 1 8-5 2 0 5 0-8-4 0 1 1-2 3-1-12-1-7 4-5-3 0 1 14 0-7 1 3 0-9 1 5 0 4 1-7-4-2-4 4 1-10-1-1-6-4 0 6 2 4 2 5 2 4-1-11 2 7-2-8-3-4 3-6 1 5 1 3 0 4 2 0 0 1 0 0 2-2 0 0 1-2 1 0 0 2-1-3-1-2 1 3 2-3-2 4 1 6 1 2 0 0 0-3-1-2 0"/><path class="p6" d="M1316 812l0-1 1-1 1 1-1-1-3-70 2 72 0 2 0-2 2 2 0-1-1-1 1 4 0 2-1-3 1 4-3-15 1 2 1 2 0 2-1 2-1-1 1-1 0 0 1 2 0-1 1-1-1 0-2 2-4-29 4 27 5 8 0-6 1 7-1 2-5 3-3-7-3-9-1-2 4 5-5 13 1 4 1-6-2 6 5-2-2-3 1 2 3-2-1-4 4-8 0 3 1 1 0 0-1 1 1-1-2 1-1-2 1 4-1 1 0-2 1-1 0 0 1 1 0-5 0-1 0-4 0 0 0 0 0 0 0 0-1-3-1 3"/><path class="p9" d="M1318 818l2 5-1 0-1-1 1-1 0-1 0 1 0 0-1-2 1 2 0-1 0 0-4 3 0-1-2 2"/><path class="p8" d="M1317 817l-1 1-1 0 1 1-1 0 0 0-1 1 1 1 0 0 0-1 0 0 1-1 1 1-1 0 1-1 0 1-1-1 1 0 0 2 1 0-2 1 0-1-1 1 2 1-3-4-1-28 4 30 0 2-2 1 2-1 0 0-1 1 2 0-1-1 1 0 0-1 0 0-3-1-1-1"/><path class="p2" d="M1322 807l-1 0-1 0 1-1 2 0 0 1 1-1 0-1 2 0-1 0 2 2-1 1 0 0-1-1 1 0-1 0 1 2-1-1-1 0 0 0 1-1-1-1 84-8-79 7-1 3-1-1 0 0-3-1-1 0 1 1 1 2-1-2 0 1 2 0 0-1-1 1 0-1 1-2 0 0-1 0 2 1-1 0-1 0 2 0 0 0 1 1-2 2-1-1 1 0 1-1 0 0-1 1 2 0 0 0-1 0-6 1 2 1 1-1 1 0 0 1 1 0-1 0-1 1-1 1 1-1 0-1 2 2 2 0 1 1-1 0 0-1 0 0 0 1 2-3-1 1 0-1 1-2 0-1-2-1 0 1-1 1 2 1 49-12-47 13-1-1-1-1 0 0 0 1"/><path class="p5" d="M1317 813l0-3 0 0-1-1 0 2-1-2 0-2 0-4 2-1 0 5-1 2-1-2"/><path class="p4" d="M1332 808l-2 2-14-14 0 1 1 4 1-2 1 1-2 1-1 1 2-1 0 0 0 1 13 25-1 2 5-8-2 2-5 5"/><path class="p1" d="M1321 804l1 2 0 0 0 0 0-1 0 1 0 1 0-1 1 0 1 0 0 0 0 1-1-1 0 0 0-1 0 2 1-1 0 0 0 0 0-2 1 1-1 1 0 0 0 0"/><path class="p2" d="M1329 809l-2-1 2 0 0-2 1-1 1 1-2-2-2 0-2 4 1 0 0 2-2-3 0-1-3 1-1 0 1 1-1-2-1 1 0 1 1-2-1-2 2 3-1 1 1-1 4-1 0 0 1 4 4 0 0-1 1-1 56-15-58 15 1 0-1 0 0-1 1 0-1-4 1-1-18-11 3-2 7 4 6-2 6 8-5 3 1-2 4 5-5-1-5 3 12 2-1 1-1-1 0 0 3-3 2-2-24 1-1 3-4-3 5 0-1 1-6 3 2 2"/><path class="p9" d="M1311 826l1 1 5 0-1-9 0 0-1-1 0 0 3-4 1 2 9 12 1-2 0 2 2 0-2-2 1-2 1 2-2 0 1 1-2-1"/><path class="p1" d="M1327 801l-1 2 0-1 0 1 0 2 0-2 0 0 0 0 0 1 1 0 0 2-1-1-1 0 0 2 3-8-2 1-2 2 1 7 0-1-1-2 0-4 1 0 0 4-2-2 1-1-2-1-1-3 0 2 0 0"/><path class="p5" d="M1318 807l-1-1 0-1 0 0 1 2 0-1 1 2-2 0"/><path class="p3" d="M1330 810l6 1 0 0-1 0-1 0 1 1-2-1 4 1 0 0-1-1-4 0 0 0 1 2-10-5 1 1-2 0 4 2 83-11-71 9-4-5-1 0-2 1-1 0-3 1 2 0-2-1 1 0 8 9 3 1 4-4-3 2-9 3 6 1 1-1 1 1 5-3-2-1 10-3 9-6-2-5-6 2 2-1-3-1-11 0 8-2-2 2-10 0-2 4 17 5-22-8 9 2"/><path class="p8" d="M1314 816l0 2 0 0-1-1-1 0 0 1 1 0 2 0 0 2 1-1 1 0-1 0-1 1 0-2 1 1 1 1 0 0-1 0 4-4 3-2-2 3 2-1 0 9 0 3-10-88-3 47 5 36-1-2-2-1-3-5 4-35-2 34 0 4 0 0-3 0 1 2 3 0 1 2-2 1-1 1-2 0 3 1-1-3-3-1 2 2 0 1-1-1 2 3 4-4 0-6-4-2 0 3 1-2 5 2-1 1-2 1-1 3 4 3 1 0-1-1 1-1-1-1-1 0 0 0 1 1-4-31 10 31 0 0-2 1 2 3-10-38 9 39-3 0 0 1-3-1 1-1 4-4-1-3-4-17-1-67 0 73 4 1-2 8-1 2-1 1 1 1 0 0 0 1-1 0-3-5 0 0-2 1 0 0 0-1 2 0 1 1 0 0 0-1 0 0-1 0 0 1 0-1-1 0 1 0 0 0-1-1 2 0 4-28-5 29 0 1 0 1 1-1 0-1-1 2 1 0 1 0 0-1"/><path class="p6" d="M1316 815l0 0 1-1-1-1 1 2 0-4 0 0 1-3-1 2 1-2-1 0 1 0-5 10 0 10 3-1-1-11 1 2-1-3 1 1 0-3 0-2 1 0 0 2 1 1 0 2-1-1 1 1-1-4 2 1-2-1 1 2-1 1 0 1 0-2 0 0-2 2 4 6 3 6 3-3-3-1 0 2-1-1-3-10 0 2 1 2-3-50 1 51-1 5-3-1 1-5 1-4-1 5 2 3-1 1 3-3-1-13-2 1 1 2 0 2 0-1 1 1-1 0 0 1 0-4 0 0-1-12 0-4 1 2-4-6 2 1 1-2-4 3 1-1 2-6-1 2 3 17"/><path class="p4" d="M1314 787l-1-4-2 1 8 3 1-5-3-6 9 0-7 9-5 8 3 5-2 3-1-5-2-7-2-6 4-1-3 2 2 10-2 7 17 1 1 0-1-1 2 2 1 1 2-1-10 0-7-14"/><path class="p7" d="M1318 819l0 0 0-1-2 0 0 1-1 0-2 1 0 1 2-4 0 0-1 0 0 1 0 1-1-1 0 0-1 0 1-2"/></g></g><clipPath id="kc15"><rect x="1428" y="708" width="127" height="127"/></clipPath><g transform="scale(.5)"><g clip-path="url(#kc15)"><path class="p5" d="M1486 808l-2-15-5 9 5-39 3 38 3-1 4-1 5 3 3 5 0-5-18 2 0 1 3 0 1 0-1 4 0-2 2 0-2 1 0-2-1 1-1 1 0-2 1 2 2-1 1 2 0-1 3-35-2 36-2 3 0-1 0-1 0 0 3-2-2-1 1-2-3 5 0-2 1-54-1 52-2 3 1-4 0 1-1-1 0 0 1 0-1 0 3 0 0 22-3 0-6 0-1-3 5 2-3 0 4-7 7-7-1 3 3-1 0-1-3 0-3-2"/><path class="p3" d="M1469 809l1 0 0 1 0-1-1 0-2 0 0 0 1-1-2 0-1 1-2 1 13-3 0 0 0 1 1-1-3 0 2 0 0 0-1 1 1 0 2 0 0 0-2-2-2 0-1 0 1 0 0 0 0 0 1 1 1 0 0 1 3 0-2 0-2 1 1 0-1 0-1 1 1 0-2 2 2 0 0-1 1-1 0 0-2 0 2-2 0 0-3 0 1 1 0 1-2 1-1-1 2 0 2 1 1-2 2 0 1 0 0 0-3 0-1 1-5-1-1-1 0 1-2-2 0 0-1 1 0 1 0-1 8-7 0 6-2-1 0 0-1 1 2 0 0 0 2 1 4 1 0-1-7 0 1 0 1 0-1 0 1 1-1-1 0 0-1 0 2-1-1 1 0 0 0 1"/><path class="p8" d="M1472 807l2 1 5-2 4 2 12 10-4 2-1 3 2 0-3 2 3 0 4-2-1 0 1-2-1-1-2 0 0 0-1 0-1-1-1-2-1-1"/><path class="p9" d="M1500 822l0 0-3 1 9-1"/><path class="p6" d="M1489 821l1-3-1-3-5 1 5 6-1 3 4 2 5-1 1-2 1-7 3-7 2-53-3 55-4 11-3-3 3 4 2 4 5-1 0-6-11-8 1-2 0 0 1 0 0 0 0 3 0 2 0-2 2 1 0-1-1 0 0 0 0 1-2-1-13 10 0 1 3 1 3 0-5 2-4-12 5 7-1 0 11-2 2-1 1-18-9 2 0 11-3-1-2 1-5 3-2 7 0-4 7-4-6-1 5 3 2-7 5 3"/><path class="p1" d="M1474 807l1 0 1-1-1 1 1 1 0-1-1 1-2-2 1-1-1 1-1-2-1 0-11-4 1 0 2 1 3 3 0-4-1 1-5-4-6-1 3 1 13 3 0 0 0 1 0 1 0 1 0-1 2 0-1 0 1 0-1 0 2 1-2 2 0 0 1 1 0 0 1 0-1 0 1-1-1 1 1-1 0 0 1 2-1 0 1-1 0 1 0-1 0 0 3-3 0 0 3 5 2-1-6-6 0 1 0 0"/><path class="p2" d="M1465 802l-3 1 3-2-1 1 6 6 1 0 2 0 0 0 0-2-1 1 0-1 2 0 0 0 11-6 1-1 0 4-3 2-2-2-3 0 2-2-2-2-3-3 1 4 3-3-2 1 5 1 4-1-8 11-1-1-1-1 0-1-1 2 0 1 0-1-31-10 27 12 2 0-2 0 2 0 1 1-1 0 1-1 0 0 0 0 1-2 1 1-1 0 1-2-1 0 0-1-3 1 3 1-1 0 1-1 0 1 17-5-7 1-11 16 2-3 2-2-4-1 4-6 1 1 0-2 3-2-2-1 2 1-1-3 1 2 0-2 5 4 2 1-2-2-2-2-9 0-1 5 1 1-4-5 3-1 1 4-2 0 3 1 2 1-5 2 0 4-1 3 3 0 3 0-5-1-3-2 0 0 1-1 4 3 2 2-3-1 0-7-1 2 0 2-4-6-2-1-2 3-1-5 3 3 7 0 0-5 7 0-1 4 3 2 2 1 2 0-3-4 3-9-2-4-3 0"/><path class="p7" d="M1484 810l8 7-1 1 1 1 1 0 0 0"/><path class="p6" d="M1488 818l-1 1 3-7 0-2-2 0 1-1 1 4-1 1-1-2 0-2-1 7-3 2 1 0 4-7-3-3-5-16 0-5 6 9-1 4 0 4-1 6 1-3 0 0-2 1 1-29 3 15-1-66 1 53 0 1-3 1"/><path class="p8" d="M1498 820l1 1-1 1 2-1 1-1-1 0 0-1-1 0-2-1 1 1-2 0 0 1-1 2 0-1 1-1 2-1 0 0 0 0 0 1 1 0-3-1 0 0 0 0-3-5 0 3 2-1 3 4-1-1 3 1 0 1 2 2-8-1 2-2 8 0 1-4 2 4-5 2-2 3-2 1 2-7-1 0-1 0 1 0 3 1-2-1 1 0-1 0-3-1 0-1 0-1-1 1 0 0 1 0-1 0-1-2 1 0 3 1 0 1 1 0-1 0-2 1 1 1 0 1-1 0 0-1-3 0 2 0-1 1 0 0 0-1"/><path class="p9" d="M1510 822l22 0 0 0-24 1 0 0-2 0 0 0-1 1 2-4-1 1 25-1-25 0-2 0 1 0 2 0 9 0-7-1-1 1-1 0 0 1 0 0 20-1-28 3 2-2 6 0 5 0-3 1-2 1 0 1 7-1 6 0 12 2 1-1-9 1 5-1 2 0-9 2 1-1 2 0-5-3-2-2-6-1 0-1"/><path class="p2" d="M1474 807l-1 0 3 0 1 0-1 1 0 0-1 0 1 0 0 0-1 1 2 0-1-1 0-1-2 0-24-8 24 9 1 0 0 1 2 1 0 0-1-2-2 1 0 0-29-16 29 14 1 1 0-1 1 0-4-12-2 1-1 1 3 1 1 1 3-7 1-3 2-4-3 2 4 1 3 4 1 0 3 0-5 1 0 0 0-3 2 0-28 10 27-11 2 0 4-2 8 2-3 5 1 3-7-2-8 0 0-4-6 5 1-1-3 3 11 6-7 4 1 1 0-2 2 1 0 0 1 0-1-1-1 1-1 0 1-1 0 0-1 1 2-1 0 0-2-1-1-1 1 0 0 1-16-5 19 7-1 0 0 0-1 0-1-2 0 0-1 1 1 1-3-2 4 2-10-2 2-2 3 4 8-3-23-8 27 7 2-2-4 1-15 6-2-2 7 0-2-2-3-2 1 3 4 2-1-2 5 5 1 1-2 0 1 4"/><path class="p1" d="M1477 797l-1 4 2 0 2-5 0 1-2 5 0-2 0-1-1 0-3 8 0 0-1 0-1 0 1-2 1-1-1-1 1 1 1 2-1 0 0-1 0 0 1 0"/><path class="p4" d="M1485 801l0 2-1 3-2 0 1 2-1-2 1-1 0 2 2-1-1-2-2 3 0-2-1-1 0 3 1 1 0-1-1 0-1 2 0 1 0 0 2-2 0 1-2-2 0 0 2 0 0 1-2 1 0 1-2 2-1 2 0-1-1 1 2-1 0-3 3-2 0-1-2 1 1 2 0-4 0 0-1 2 0-3-2-2 0 3 0 2-1 0-2-2 3 1-1-1"/><path class="p7" d="M1490 819h0"/><path class="p5" d="M1486 809l1 0 1 4 0-34 5 3-4 2-2 8 0-3 2 3 0-2 1-63-3 73 0 1 1 9 0-9 5-21-8 27 2-1 4 15 9 7-3-9-4 5-4-9-1 4 8 1 0 0 4 2 6-10 0 0 8 4"/><path class="p3" d="M1472 809l3 0-1 2 2-1 1 1 0-1-2-1 1 0-1 1 0 0-10-1 1 0 2-5-1-1-4 2-1-4 5-1 5 0-3 4-3 1-5-3 20 6-1-1-2 2-1-4 7 0-5 4 0-5-4-1 3 6 3-1-7-1 9 2 6 1-3-1 3-1-2-6-4 0-3 1 3 0 1 2-3-2 3 1-5 4-2 0 2-1 0 0 0 0-2 1 1 0 0-1"/><path class="p3" d="M1476 808l-2 2 0 0-1-1 1 0 0 0 0 0-1-1-2-1 2 0-1 1-3 0-1 1 1-2-3 1 8 0 0 1-1 1-1 1-1 0 1 1 3-3-2-1-2-1 3 0 0 1 1 0 0-1 1 0-1 0 4 3 0-2 0 2-1-2 0 2 0 0 0 0 0 1-1 0-5-1-2 3 1-1-2 0 4-3 4-2 6 2-4 4 2 1-6 2-2 1 1-2 6 0-3 1-2 0-5 1-5 2-4-4 4 1 2 2-2 1-3-5-2 0-3 0 0-4 2 1-1-2 0-1 6-1 3 4 3-3-6 1 3 0 6 1-5 0 6 1-6 0-1 1 3-4 3-4-2 1 1-1 0-6 3 0-6 2 2 2 0 2-2-1 2 2-2-2 8-3 3 3 0 1-1 1-4 0 1 2-1 0 0 0 0 2 2 0-2 1 0 1 1 0 1-1 0-1 2 1-1 2 1-2-2 1-3 1-1 0 0 0 1-1 3 0"/><path class="p1" d="M1474 804l0 2 1 0 1 0-1-1 0 1 0 1 1-1-1 0 1 0 0 0 1 1-1-1 1 0-1-1 1 2 0-1 0 0 0 0 0-2 0 1-1 1-1 0 1 0"/><path class="p5" d="M1486 813l-1-3 0 0 0-1 1 2 0-2-1-2 1-4-1-1 2 5 0 2 13-2"/><path class="p7" d="M1493 822l9 0-3 0-2-1-8 0-1 0-2-3-1 2-1 2-2-1-3 0-2 2 4 2 7 3 6-2 1-4-3 1-4 2-4-4 4 1 3 1-3-5-1 1 1 0"/><path class="p4" d="M1477 808l3 2 3-14-1 1-2 4 2-2 1 1 2 1-1 1-2-1-1 0-1 1-3 25 0 2 3-8 4 2 1 5"/><path class="p8" d="M1492 817l3 1 1 0 1 1-1 0 0 0-1 1-3 1 1 0 1-1 0 0-2-1-1 1 1 0 0-1 1 1 1-1 1 0 2 2-1 0-1 1 4-1-2 1 0 1-3-4 5-28-1 30 0 2 1 1 0-1 0 0 1 1-1 0-1-1-1 0 1-1 1 0-1-1 0-1"/><path class="p2" d="M1475 807l1 0-1 0 0-1-2 0 2 1 0-1 1-1-2 0 1 0-1 2 1 1 2 0 1-1 0 0-1 0 0 2-1-1 0 0 1 0-1-1 1-1-31-8 29 7-2 3 1-1 2 0 0-1 1 0-2 1 0 2 0-2 0 1-1 0-1-1 1 1 1-1 1-2-1 0-1 0-1 1 0 0 1 0 0 0 2 0-2 1 1 2 0-1 0 0-2-1 3 0 1 1-1 0 1 0 0 0 3 1-1 1-1-1 0 0 1 1-1 0-1 0 1 1 0 1-1-1 0-1 0 2 1 0-1 1 0 0-1-1 1 0 0 1 2-3 1 1 2-1-1-2-2-1 1-1-2 1 2 1-1 1-28-12 27 13 2-1 0-1-1 0-1 1"/><path class="p6" d="M1487 812l1-1-1-1-1 1 0-1 3-70 0 72-1 2 1-2-1 2-1-1 0-1 1 4 1 2 0-3 0 4 2-15-1 2 0 2-1 2 0 2-1-1 2-1 0 0-1 2 0-1-1-1 0 0 2 2 1-29-3 27-5 8-4-6 2 7-2 2 5 3 3-7-1-9-2-2-4 5 0 13 5 4 5-6 1 6-1-2 3-3-2 2 2-2 2-4-7-8 1 3-1 1 1 0 2 1-1-1-2 1 0-2 0 4 0 1-1-2 1-1-1 0-2 1 1-5-1-1-1-4 0 0-1 0 0 0 0 0 0-3 1 3"/><path class="p9" d="M1510 818l-2 5 1 0-1-1-3-1 0-1 1 1 0 0 19-2-7 2-11-1 2 0 0 3 12-1-8 2"/><path class="p4" d="M1483 787l-1-4 3 1-3 3 3-5 0-6-2 0-1 9 3 8 1 5-2 3 2-5 1-7 4-6 0-1-1 2-2 10 3 7-12 1 1 0 0-1-2 2 0 1 0-1 4 0 0-14"/><path class="p7" d="M1493 819l0 0 0-1 2 0-1 1-1 0 0 1 1 1-5-4 1 0 0 0 1 1 1 1 1-1 1 0 3 0 2-2"/><path class="p2" d="M1477 809l1-1-1 0 0-2 1-1-1 1 0-2 0 0 4 4-1 0 1 2 0-3 2-1 0 1 0 0 1 1 0-2 0 1 0 1 0-2 2-2-2 3 0 1 0-1-6-1-1 0-5 4 7 0-1-1-1-1-25-15 24 15 1 0 0 0-1-1-1 0-3-4 0-1 20-11-3-2-5 4-5-2 0 8 2 3 1-2 1 5 2-1-1 3 1 2 1 1-1-1-3 0-2-3-7-2-8 1 3 3 3-3 0 0 0 1-1 3 3 2"/><path class="p6" d="M1490 815l1 0-2-1 0-1-2 2 2-4 0 0 1-3-1 2-1-2 0 0 0 0 8 10 0 10 0-1-7-11-1 2 1-3-1 1 1-3-1-2-2 0 1 2 0 1-1 2 2-1-1 1-1-4 1 1 0-1-2 2-1 1 0 1-1-2 1 0 3 2 0 6 2 6-3-3 0-1-1 2 3-1-1-10 2 2-1 2-14-50-1 51 1 5 29-1 0-5-5-4 0 5 2 3 5 1-2-3-19-13 1 1 6 2-1 2 1-1-2 1 1 0-1 1-1-4 0 0 0-12-2-4 0 2 0-6-2 1 3-2 2 3-3-1-1-6-1 2-8 17"/><path class="p8" d="M1499 816l0 2 0 0-2-1 1 0-1 1-1 0 1 0-1 2-1-1-1 0 1 0 1 1 1-2-1 1-2 1 1 0 1 0 1-4 3-2-3 3-2-1-2 9 0 3 3-88 3 47-2 36 4-2 0-1 1-5-8-35 2 34 2 4-1 0 1 0 1 2 0 0 6 2-2 1-1 1-4 0 1 1-2-3 5-1-1 2-5 1-3-1-3 3 6-4-1-6 2-2-2 3-3-2-3 2-1 1 1 1 4 3 3 3-1 0 2-1-1-1 0-1 1 0 0 0-1 1 9-31-8 31 0 0 0 1-5 3 7-38-5 39 5 0-6 1 2-1 0-1-6-4-3-3 32-17-6-67-1 73-2 1-8 8-2 2 0 1-1 1 0 0-1 1 1 0 0-5 0 0 2 1 0 0 2-1-1 0 0 1 2 0-3-1 1 0 0 0-2 1-3-1 1 0 0 0 0 0 0-1 0 0-3-28 4 29-1 1 2 1 1-1 1-1-1 2-1 0 0 0-1-1"/><path class="p1" d="M1476 801l0 2 0-1 0 1 0 2 0-2 1 0 0 0 0 1-2 0 1 2 2-1-4 0 0 2-4-8-3 1 0 2 5 7 3-1-1-2-1-4-4 0-1 4 2-2 1-1 1-1 2-3 1 2 2 0"/><path class="p5" d="M1484 807l2-1 0-1-2 0-1 2-1-1 2 2 0 0"/><path class="p3" d="M1476 810l-4 1 0 0 2 0 0 0 2 1 0-1-2 1 0 0 0-1 3 0 1 0-1 2 6-5-2 1 0 0 6 2-33-11 19 9-1-5-1 0 2 1 1 0 2 1-2 0 3-1 2 0-7 9 0 1 4-4-7 2-1 3 5 1 0-1-2 1-7-3 1-1-6-3-3-6-5-5 1 2 1-1-3-1 4 0-5-2-1 2-1 0 3 4-2 5 29-8 1 2"/><path class="p9" d="M1531 826l1 1 1 0-31-9-4 0-3-1-2 0 32-4-27 2 34 12-10-2-7 2-3 0 2-2-1-2 3 2-1 0 3 1-2-1"/></g></g><clipPath id="kc16"><rect x="1561" y="708" width="127" height="127"/></clipPath><g transform="scale(.5)"><g clip-path="url(#kc16)"><path class="p1" d="M1658 807l-2 0-3-1-2 1-3 1-3-1-2 1-3-2-2-1-3 1-3-2-2 0-8-4-3 0-2 1-3 3-2-4-3 1-3-4-2-1-3 1 50 3-2 0-2 1-3 1-2 1-3-1-2 0-2 0-3 0-2 0-3 1-2 2-2 0-3 1-2 0-2 0-3 0-2-1-3 1-2-1-2 0 24 2-3 0-2-1-2 1-2-1-2 0 30-3-4 0-4 5 9-1-47-6-2 1-2 0"/><path class="p2" d="M1627 802l-2 1 33-2-3 1-45 6-4 0-4 0-3 0-4-2-4 1 67-1-2 0-2 0-65-6 68-1-2 4-2 2-2-2-2 0-2-2-2-2-2-3-2 4-2-3-2 1-2 1-2-1-41 11-3-1 68-1-2-1-2 2-2 1-2-1-2-10-32 12-2 0-2 0-2 0-3 1-2 0-2-1-2 0-2 0-2-2-2 1-2 0-3-2 67 0-4-1-5 1-5 1-4 0-5-1-5 1 26-5-3 1 5 16-2-3-3-2-2-1-3-6-2 1-3-2-2-2-2-1-3 1-2-3-3 2-2-2-2 4-3 1-2-2-3-2-2 0-3 5-2 1-2-5-3-1-2 4-3 0-2 1-3 1-2 2-2 4 67 3-2 0-2 0-2-1-3-2-2 0-2-1-3 3-2 2-2-1 12-7-6 2-6 2-5-6-6-1-6 3-6-5-5 3-6 0-6-5-6 0 66 4-2 2-2 1-2 0-2-4-8-9-2-4-2 0"/><path class="p5" d="M1604 808l-3-15 18 9-4-39-5 38-4-1-5-1-5 3-4 5 66-5-11 2-2 1-2 0-2 0-3 4-2-2-2 0-2 1-3-2-2 1-2 1-2-2-2 2-3-1-2 2-2-1-2-35-3 36-2 3-2-1-2-1-2 0-3-2-2-1-2-2-2 5-3-2 67-54-4 52-4 3-4-4-4 1-4-1-4 0-4 0-4 0-4 0 15 22-2 0-2 0-3-3-2 2-2 0-2-7-3-7-2 3-2-1-3-1-2 0-2-2"/><path class="p7" d="M1631 810l27 7-2 1-2 1-2 0-3 0"/><path class="p6" d="M1601 821l-2-3-5-3-2 1 61 6-3 3-3 2-3-1-3-2-3-7-3-7-2-53-3 55-3 11-3-3-3 4-3 4-3-1-3-6 23-8-4-2-4 0-4 0-4 0-4 3-4 2-4-2-4 1-4-1-4 0-4 0 67 1-2-1-40 10-4 1-4 1-4 0-4 2-5-12-4 7 67 0-69-2 67-1-20-18-2 2-2 11-2-1-2 1-3 3-2 7-2-4-2-4-2-1-2 3-2-7-2 3"/><path class="p3" d="M1651 809l-4 0-4 1-3-1-4 0-4 0-3 0-4-1-4 0-4 1-3 1-17-3 34 0-2 1-3-1-2 0-2 0-2 0-2 1-2 0-2 0-2 0-2-2-2 0-2 0-2 0-2 0-2 0-2 1-2 0-2 1-3 0-2 0 68 1-3 0-2 0-3 1-3 0-2 2-3 0-3-1-2-1-3 0-2 0-3-2-3 0-2 0-3 1-3 1-2 1-3-1-3 0-2 1 3-2-3 0-3 0-3 0-3 0-3 1 50-1-3-1-2 1-2-2-2 0-2 1-2 1-2-1-6-7-18 6-3-1-2 0-2 1-3 0-2 0-2 1 54 1-2-1-49 0-3 0-2 0 68 0-2 1-3-1-2 0-3 0-3-1-2 1-3 0-2 1"/><path class="p8" d="M1599 807l-3 1-3-2-2 2 8 10-3 2-3 3-2 0 67 2-2 0-2-2-2 0-3-2-2-1-2 0-2 0-3 0-2-1-2-2-2-1"/><path class="p9" d="M1609 822l-2 0-2 1-2-1"/><path class="p1" d="M1610 797l-4 4-4 0-3-5-4 1 15 5-4-2-4-1-4 0 10 8-3 0-2 0-3 0-2-2-2-1-3-1-2 1 67 2-3 0-3-1-3 0-4 0"/><path class="p6" d="M1651 818l-4 1 2-7-2-2-2 0-2-1-2 4-2 1-2-2-2-2 23 7-2 2-3 0-3-7-2-3-3-16-3-5-2 9-3 4-2 4-43 6-3-3 67 0-4 1-58-29-5 15 68-66-2 53-3 1-2 1"/><path class="p5" d="M1627 809l-3 0-3 4 26-34-2 3-3 2-2 8-3-3-2 3-2-2-3-63-2 73-3 1-2 9-3-9-2-21-3 27-2-1-3 15-7 7-4-9-3 5-3-9-4 4 68 1-2 0-2 2-3-10-2 0-2 4"/><path class="p2" d="M1632 807l-2 0 13 0-4 0-4 1-3 0-4 0-4 0-4 0-4 1-4 0-3-1-4-1-4 0-4-8-4 9-4 0 68 1-2 1-2 0-2-2-2 1-2 0-2-16-2 14-2 1-2-1-3 0-45-12 67 1-2 1-3 1-2 1-2-7-3-3-2-4-3 2-2 1-3 4-2 0-3 0-2 1-3 0-2-3-3 0-2 10-2-11-3 0-2-2-3 2-2 5-3 3-2-2-3 0-2-4-3 5-2-1-3 3 48 6 21 4-2 1-2-2-3 1-2 0-2 0-3-1-2 1-2 0-3-1-2 0-2 1-3-1-2 0-2-1-3-1-2 0-2 1-3-5-2 7-2 0-3 0-2 0-2-2-3 0-2 1-2 1 34-2-3 2 15-2-4-2-5 4-4-3-4-8-4 7-4-2-5 1 28 6-3-2-4 0-3-2-3-2-3 3-4 2-3-2-3 5-4 1-3 0-3 4"/><path class="p3" d="M1635 809l-8 0-2 2-3-1-3 1-2-1-3-1-2 0-3 1-3 0 52-1-3 0-12-5-3-1-4 2-4-4-3-1-4 0-4 4-4 1-3-3 7 6-3-1-2 2-3-4-3 0-3 4-2-5-3-1-3 6-3-1-2-1-3 2 67 1-2-1-2-1-2-6-2 0-2 1-2 0-2 2-2-2-2 1 0 4-5 0-6-1-5 0-5 0-6 1-5 0-5-1"/><path class="p8" d="M1604 820l-3 1-2 1-3-1-3-1-2 0 67-1-3 0-4-1-4 1 10 0-3 1-2 2-3-1-3-1-3-1-3 0-2 0-3 1-3 0-3-1-2 0-3 0-18-5-2 3-2-1-2 4-2-1-2 1-2 1-3 2-2-1 68-2-2 0-2-4-2 4-45 2-2 3-2 1-5-7-5 0 66 0-2 0-2 1-3-1-2 0-3 0-2-1-3-1-2-1-2 1-3 0-2 0-3 0-2-2-2 0-3 1-2 1-3 0-2 0-3 1-2 1-2 1-3 0-2-1-3 0-2 0-3 1-2 0-2-1"/><path class="p7" d="M1648 819h0"/><path class="p4" d="M1633 801l-2 2-2 3-3 0-2 2-2-2-2-1-2 2-2-1-2-2-2 3-2-2-2-1 11 3-3 1-3-1-2 0-3 2-3 1-2 0-3-2-3 1-2-2-3 0-3 0 68 1-3 1-2 1-3 2-3 2-2-1-3 1-3-1-3-3-2-2-3-1-3 1-2 2-3-4-3 0-3 2-2-3-3-2-3 3-2 2-3 0-3-2-2 1-3-1"/><path class="p9" d="M1634 822l-2 0-2 0-2 1-2 0-2 0-2 0-2 1 15-4-2 1-2-1-2 0-2 0-2 0-2 0-2 0-2-1-2 1-3 0-2 1-2 0-2-1-8 3-2-2-2 0-2 0-3 1-2 1 67 1-6-1-5 0-2 2-2-1-2 1-2-1-3 0-2 2-2-1-3 0-2-3-2-2-3-1-2-1"/><path class="p8" d="M1648 817l-2 1-3 0-2 1-3 0-2 0-3 1-32 1-3 0-2-1-3 0-2-1 67 1-4 0-5-1-4 1-5-1-5 0 22 2-2 0-2 1-24-1-3 1-3 1-20-4 27-28-2 30-3 2-2 1-2-1-2 0-2 1-2 0-2-1-2 0-2-1-3 0-2-1-2-1"/><path class="p5" d="M1643 813l-2-3-2 0-2-1-3 2-2-2-2-2-3-4-2-1 20 5-4 2-46-2"/><path class="p1" d="M1633 804l-2 2-2 0-2 0-3-1-2 1-2 1-2-1-2 0-2 0-2 0-2 1-3-1-2 0-2-1-2 2-2-1-2 0-2 0-2-2-3 1 68 1-4 0-4 0"/><path class="p3" d="M1614 808l-3 2-2 0-2-1-3 0-2 0-2 0-3-1-2-1-2 0-2 1 67 0-2 1-3-2-2 1-20 0-5 1-4 1-5 1-5 0-4 1 42-3-21-1-3-1-3 0-2 1-3 0-3-1-3 0-2 0-19 3 67-2-2 2-2-2-2 2-2 0-2 0-2 1-2 0 1-1-4 3-4-1-4 0-5-3-4-2-4 2-5 4-4 1-4 2-5 1-4-2-4 0-5 1 68 0-4 1-4 2-3-4-4 1-4 2-3 1-4-5-3 0-4 0-4-4-3 1-4-2-4-1-3-1-4 4-4-3-3 1-4 0 67 1-3 0-3 1-3 0-3 1-3-4-3-4-4 1 22-1-3-6-4 0-4 2-4 2-4 2-4-1-3 2-4-2-4-3-4 3-4 1-4 1-3 0-9 2-2 0-2 0-2 2-2 0-3 1 68 1-2 0-3-1-2-1-2 1-3 2-2-2-2 1-3 1-2 0-3 0-2-1-2 0"/><path class="p2" d="M1648 807l-4 0-4 0-3-1-4 0-4 1-3-1-4-1-4 0-3 0-4 2-3 1-4 0-4-1-3 0-4 0-4 2 68-1-2 0-2 0-2-1-2-1-2-8-2 7-9 3-2-1-2 0-2-1-2 0-2 1-2 2-2-2-2 1-2 0-2-1-3 1-2-1-2-2-2 0-2 0-2 1-2 0-2 0-2 0-2 0-2 1 48 2-2-1-2 0-2-1-35 0-3 1-3 0-3 0 67 0-9 1-3 1-2-1-3 0-2 1-3 0-2 0-3 1-2 1-3-1-2-1-3 2-2 0-2 1-3 0-2-1-3 0-2 1-15-3-3 1 68-1-2-2-2-1-2-1-2 1-2 1-2 1-3-12-2 13-2-1-2-1-2 0-2 1"/><path class="p6" d="M1631 812l-3-1-2-1-3 1-2-1-3-70-2 72-3 2-2-2-3 2-2-1-3-1 0 4-4 2-5-3-5 4 34-15 35 2-4 2-5 2 9 2-2-1-3-1-3 0-2 2-3-1-3-1-3 0-2 2-3-29-3 27-41 8 68-6-3 7-4 2-4 3-4-7-3-9-4-2-4 5-3 13-4 4-4-6-4 6-3-2-4-3-4 2-4-2-3-4 6-8-4 3-4 1-4 0-4 1 68-1-3 1-3-2-3 4-3 1-3-2-3-1-3 0-3 1-3-5-3-1-3-4-3 0-3 0-3 0-3 0-3-3-3 3"/><path class="p7" d="M1636 822l-4 0-5 0-4-1-5 0-4 0-5-3-4 2-4 2-5-1-4 0 66 2-3 2-2 3-3-2-3-4-3 1-3 2-3-4-3 1-3 1 11-5-2 1-2 0"/><path class="p9" d="M1616 818l4 5-3 0-3-1-3-1-3-1-2 1-3 0-3-2-3 2-3-1-3 0 65 3-3-1-2 2"/><path class="p4" d="M1648 808l-2 2-39-14-3 1-2 4-3-2-3 1-3 1-2 1 67-1-3 0-4 1-47 25-2 2-3-8-2 2-3 5"/><path class="p2" d="M1616 809l-2-1-2 0-3-2-2-1-2 1-3-2-2 0 46 4-3 0-3 2-3-3-3-1-3 1-3 0-3 1-3-2-3 1-3 1-3-2-3-2-3 3-3 1-3-1 51-1-2 0-59 4 56 0-3-1-3-1-3-15-4 15-3 0-3 0-3-1-4 0-28-4-4-1 48-11-2-2-2 4-3-2-2 8-3 3-2-2-3 5-2-1-3 3 12 2-3 1-3-1-3 0-2-3-3-2 6 1-5 3-5-3-5 0-5 1-5 3-5 2"/><path class="p3" d="M1626 810l-2 1-2 0-3 0-2 0-3 1-2-1-2 1-3 0-2-1 50 0-3 0-3 2-51-5-3 1-3 0 66 2-4-11-6 9 9-5-2 0-3 1-2 0-3 1-2 0-3-1-2 0-27 9-3 1-2-4-3 2-2 3-3 1-2-1-2 1-3-3-2-1 67-3-4-6-5-5-4 2-5-1-5-1-4 0-5-2-4 2-5 0-5 4-4 5-3-8-3 2"/><path class="p9" d="M1650 826l-4 1-4 0-30-9-3 0-4-1-3 0-3-4-3 2 22 12-6-2-5 2-6 0-6-2-6-2 68 2-3 0-2 1-3-1"/><path class="p7" d="M1624 819l-2 0-2-1-3 0-2 1-2 0-2 1-2 1 46-4-3 0-3 0-2 1-3 1-2-1-3 0-2 0-3-2"/><path class="p1" d="M1644 801l-2 2-2-1-3 1-2 2-2-2-3 0-2 0-2 1-3 0-2 2-2-1 12 0-4 2-28-8-3 1-2 2-3 7 67-1-2-2-2-4-2 0-3 4-2-2-2-1-3-1-2-3-2 2-3 0"/><path class="p4" d="M1647 787l-3-4-3 1-3 3-3-5-3-6-3 0-3 9-3 8-3 5-3 3-3-5-3-7-3-6-2-1-3 2-3 10-3 7 48 1-2 0-2-1-2 2-2 1-2-1-17 0-3-14"/><path class="p8" d="M1598 816l-3 2-2 0-2-1 67 0-3 1-2 0-3 0-29 2-4-1-5 0-5 0-5 1-5-2-5 1 66 1-2 0-2 0-21-4-3-2-2 3-2-1-34 9-3 3 67-88-6 47-5 36-6-2-5-1-6-5-5-35-6 34-6 4-5 0-6 0-5 2-6 0 68 2-4 1-3 1-3 0-3 1-4-3-3-1-3 2-4 1-3-1-3 3-3-4-4-6-3-2-3 3-4-2-3 2-3 1-3 1-4 3 64 3-3 0-3-1-4-1-3-1-4 0-3 0-4 1-10-31-4 31-3 0-3 1-4 3-3-38-4 39-3 0-4 1-3-1-4-1 0-4 68-3-25-17-3-67-3 73-2 1 34 8-5 2-6 1-6 1-6 0-5 1-6 0-9-5-3 0-2 1-2 0-2-1-3 0-2 1-2 0-3-1-2 0-2 0-3 1 67-1-5 0-4 0-5 0-5-1-5 0-5-28-4 29-5 1-5 1-5-1-4-1-5 2-5 0-5 0 67-1"/><path class="p6" d="M1602 815l-2 0-2-1-3-1-2 2-2-4 67 0-2-3-2 2-3-2-2 0-2 0-53 10-3 10 67-1-20-11-4 2-4-3-4 1-4-3-4-2-4 0-4 2-4 1-4 2-4-1-5 1-4-4 67 1-5-1-5 2-5 1-5 1-5-2-5 0-19 2-3 6-2 6-2-3-2-1-2 2-2-1 63-10-3 2-4 2-47-50-4 51-5 5 52-1-3-5-3-4-2 5-3 3-3 1-3-3-19-13-3 1 26 2-2 2-3-1-2 1-2 0-2 1-3-4-2 0 33-12-6-4-6 2-5-6-6 1-6-2-6 3-5-1-6-6-6 2 26 17"/><path class="p5" d="M1592 807l66-1-5-1-4 0-5 2-5-1-5 2-5 0"/></g></g><clipPath id="kc20"><rect x="764" y="843" width="127" height="127"/></clipPath><g transform="scale(.5)"><g clip-path="url(#kc20)"><path class="p7" d="M859 871l0 15 1-2 0 0 0 3 0-2"/><path class="p9" d="M857 924l0-18 0 25 0 0"/><path class="p1" d="M844 936l1 1 0 2 0-3 0-1 0-3 0 2 0 1 1-3 0 0 0-3 0 2-13-14 0-7 0 2 0 5 0 2 0 10 0 5 1 1 0-13-26 20 0-1 0 5 0 1-1-3 0 1 0-1 0 0 0 3 0 0 0-2-1-3 0-3 0 1 0 3 0 0 0-1 0-2-1 0 0 0-3-1 16 0 0-1 0-2 1 0 0 0 0 0-7 16 1-6 0 16-19-43 14 13 0 1 0 4"/><path class="p2" d="M820 910l0 2 24 32 0-4 17-19 0 1 0 1 0-2 0-2 0 4-1 2 0-1 0 0-52 14 1 6 0-10 0 15 0 2 0-7 0 1 0-11 1-3 0 0 0 4 0 6 0 11 0-6 22-20-1-3 0 2 0 1 0-3 0-3 0-3-39-1 59 4 0 0 0 2-1 3 0 1 0 0 0 0 0 1 0-3 0 2-1-1 0 1 0 1 0 4 0-2 0 0-1-1 0 1 0 2 0 2 12 1-1 3-18-25 0 13 0 2 0 8-1-1 0-13 0 1 0 2 0-7 0-3 0 14-1 9 0-12 0 0 0-4 0-4 0 5-1 10 0 1 0 3-3 2 0 0 0-6 0-10-1-2 0-1 0 0 0 0 0-4 0 0 0-1-1 6 0 1 0-3 0-7 0 1 0 7-1 3-14-15 0-10 0 7 0 2 0 0 0 3 1-1 0 5 0-4 0 0 0 0 0-4 1 3 0-6 0 0 0 3 9 9 1 0 0 4"/><path class="p6" d="M862 874l0-8-28 25 0 7 13 5 0 4 0 2 0-3 0 8 0-17 0 8 1-4 0 6 0 10 0-1 0-11 0-14 0-6 1 13 4 0 0-4 0-8 0 0 0-2 0-3 0-2 1 2 0 1 0 0 0-1 0 2 0-1 0 0 17-14 0-1 0 2-1-16 0 4 0 3 0-2 0 0-14 3 0-1-22 25 1 2 0-1 0-4 0-12 0 5 0 8 0 1 1-9 0 4 0 9 0-1 0-16"/><path class="p5" d="M845 898l0 14-3-10 0 14 0-22 0-5 0 9 0-6 1 14 0-2-12-17 0-3 0-3 0 2 0 2 1 4 0 5 0 0 0 1 0 0 0-4 1 1 0 4 0-6 0-1 0 1 0 12 0-14 1 4 0 1 18 3 0 0 0 0 0 3 0-1-1-2 0-3 0 21 0-18 0 2 0-2 0-2-1-2 0-2 0-2 0-3 0 4-52-29 0 2-1 4 0 9 0-2 0-12 0-13 0 8-1-7 0 8 0 3 0 10 0-7"/><path class="p3" d="M841 918l0 0 0-2 0 1 0-2 0 0-1 1 0 3 0-3 0 2 0-1 24-13-55 21 0 2 0-4 1 1 0-1 0 1 0 3 0-1 0-2 0 0 1-2 0 2 0-2 0-2 0-3 0-3 1 2 0 0 0 1 0 0 16-2 0 3-1 1 0 0 0-1 0 2 0-2 0 2-1-1 0-3 0 1 0 1 0 2 0 2 0-2-1 1 0 1 0 1 0 0 0 2 6-1 7-7 0 0 0 0 0-1 0 3 0 0-16-10 0 0 0 0 0 3 1 4 0-2 0-1 0 1 17 24 16-36 0 0 0 0 0 2 0 1 0 4-1-3 6 6 0-3-30 5 0-2 0-2 0-3 0 1 0 2 0-3-1 0 0 1 0 1 0 0 0-2"/><path class="p8" d="M865 876l0-4 0 17 0 3-60 2 0 3 0-24 0 17 0 5-1 20 51-16 0-4 0-1 0 1 1 5 0 8 0 4 0-3 0-2 0 0"/><path class="p4" d="M839 907l0 3-1 4 0-2 0-3 0-4 0 3 0-1-1 2 0 1 0-4 0 0 0-2-13 2 0 1-1-6 0-3 0 1 0-1 0 0 0 6 0 3-1-2 0-2 0 4 0 4 0 0 0 0 0-1-1-3 0 1 0-1 0 1-5-4 0 1 0-2 1-2 0-1 0-1 0-2 0-1 0-4 0 1 1-1 0 1 0 2 0 0 0 2 0 2"/><path class="p7" d="M808 900h0"/><path class="p1" d="M808 910l0 8 0-9 0-7 0-3-3 40 0 1 0 1 0-2 34 3 0 1 1 0 0 1 0 0 0-1 0 0 0 1 0 2 1 0 0 0 0-5 0-2"/><path class="p8" d="M829 899l0-6-1-2 0-6 0 2 0 7 0 6 0 2 0 0-1 1 8 3 1 3 0-3 0-5 0 2 0 8 0-5 1 3 0 2 0-6 0 0 0 1 0-2 1 9 1-18 0-14 0-1 0 22 0-1 0-11 1-5 0-18 0 3 0 9 0 3 0 7 23 1 0-1 0 28-18-22 0 1 0 0 1-3 0 1 0 4 0 1 0 3 0 2 1 1 0-4 0-1 0 5 0 2 0 3 0 1 1 3 0-5 0-3 0-4-34-4 0-6 0 1-1 0 0 0 0-4 0 3 0 4 0-1 0 7-1 2"/><path class="p9" d="M864 903l0 1-1 1 0 2 0 1 0-1 0-7 0 0-3 21 0 5 1 3 0 1 0-3 0-1 0 9 0-5 0 3 1-1 0-4 0-1 0-2 0 4-57 31 0-10-1 2 0 0 0-8 0-4 0 5 0 4 0-2 54-10 0 4 0 1 0-13-1-11 0 31 0-8 0-12 0 6 0 3 0-8-1-28"/><path class="p6" d="M818 867l0 2-1 8-1-1 0-3 0 0 0 3 0-1 0 3 0-3 35-16 0-4 0-2 0 5-1-6 0 4 0 7 0-6 0 13 0-7 13 8 0 3 0 0 0 1-33-12 0 8 0 24 0-18 0-4 1-11"/><path class="p2" d="M834 919l0-1 15 3 0 0 0-4 0 4 1-2 0 1 0-3 0 2 0-1 0-2 1-2 0 1-62 1 62 4 0-1 0 0 0-2 1 2 0 2 0-4-23-1-38-4 38 1 0 4-1 1 0-1 0-31 0-3 0 13 0 7-1-9 0-9 0 13 0-2 0 4 0 11-1-13 0 3 0 7 0-4 0 12 0 8 0 1-32-4 31-1 0-8 21 0 0-1 0 1 0 5-1 7 0 1 0-5 0-12 0 2 0 7-27 22 11-13 0-1 0-3 0 0 1-1 0 1 0-1 0-3 0 0 0 0 0 0 1-4 0-2 0 2 0 2 0 1 0-1 1 2-41 3 41 0-9 4 0-2 0-1 1 1 0-4 0 1 0-3 7 0 0 4 28-4 0 6 0-4 0 0-69-5 68-6 0-9 0 7-8 12 0 5 0 5 0 5 0-11 0-8 0 5 1 8 0 1 0 11 0-10 0-5"/><path class="p3" d="M830 906l9 12 0-2 0 1 0-4 0 2 0-1-1 1 0 5 0-1 21-23 0-14-21-2 0-3 0 5 0 7 0-6 0 0 1-7 0 7 0-1-6 41 0 6 0 2 0 3 0-3-1 1 0 3 0-3 0-8 0-10 0 9 0-5-1-5 0-3 0 4 0-1 0-10 0 7-1 5 0-5 24 0 0 4-7 5 0-1 0-2 0 1 0-1 1 0 0-3 0 0"/><path class="p5" d="M841 879l0-2-1 2 19-12 0 0 0 0 0-3 0 4 0 9 0 10 1 30 0-30 0 1 0-2 0 4 0 13 1-5 0-5 0-5-18 6 0-9 0 1-1-6 0-10 0 7 0 1 0 13 0 2-1 4 0-1"/><path class="p5" d="M798 895l0 3 0-2 0-3 0 7 0-2-1 3 0 2 0-3 31 1 0-2-9 6"/><path class="p9" d="M856 898l-25 30 0-1 0-6 0-10 0 6-1 2 0-1 0 8 0 3 0-4 0 5 31-15 0 10 0-9"/><path class="p4" d="M818 898l0 2 30 6 1 0 0-1 0-2 0 0 0 2 0 1 1-1 0 2 0-4-31-7 0 9 0-3 0 8 1-8"/><path class="p8" d="M856 884l1 3 0-2 0 2 0-4 0 0 0-5-52 23 0 2 0 1 0 0 0-5-1 4 0 0 0-2 0 6 0 1 0-4 29-11 0 7 0 1 6 1 0 3 0 3 1-7-6-9 0 4 0-4 0 6 0-5 1-1 0 0 0-3 0 3 0-6 0-3 0 4 1-4 0 2"/><path class="p6" d="M845 868l0 1 1-1 0 3 0 4 0 43 0-39 0-1 1 3 0-3 0 2 0-2 13-4 0 2 0-2-1 0-13 11 0 5-1 0 0 2-10 4 0 1 0-1 0 5 0 0 0 3 0-6 1-3 0-4 0 24 0-22 8-12 0 7 0 4 0 1-1 6 0 0 0-5 0-3 0-1 0 0-1 10 0 5 0 9 0-13 0 1 0 4 0-8-1 2 8-13 0 0 0 3 0-1 0 4 0-3 1-1 0-4 0 2 0 2 0 3 0 2 1-2 0-4 0 7 0-3 0 0 0 1 0-7 1 3-39 1 0 6 1-6"/><path class="p3" d="M861 915l1-3 0 0 0 2 0 1 0-1 0-3 1 0 0-1 0 0 0 1 0 4 0 1 0-4 1 1-11 4 0-2 0-1 0 2-1-2 0-2-2 3-21 4 0-1 1-1 0-2 0 1 0 2 0 1 0 0 21 2 0-1 0 1 0-2 0-4-1 0 0 0 0 0 0 1-4 6 0 2 0-8 0-1 0-7 0 7 1-1 0-7 0 3 0 7 0 1 0-6 0 7 1-6 0 9 0-8 0-1 0 9 0-6 0 3-13-7 0 6 0 5 0 3-1 6 0-3 0-9 0 8 0-16 0 5 0 1-1 0 0 3 0 4 0-3 0 9 0 2 0-6-1-2 0 0 22 9 0 7 0-13 0 8 0 11 1 6 0-1 0 5 0 1 0-3 0-14 0-10 1 2 0 1 0 8-24-34 0 0 0 0 0 1 0 1 0-2 0 0 1 3 0-2 0 0 0 1 0-1 0-1 0 2 1-4 0-3 0 3 0 3 0 2"/><path class="p1" d="M833 940l-1-1 0 0 0 2 0-3 0 1 0-4 0-1-1 3 0 1 0 0 0 3 0-1 0 2-1 0 0-4 0 4 0 3 0 2 0 3-26-2 0-2 0-3 0-1"/><path class="p7" d="M853 918l0-14 0-2 0-3 0-5 0 7 1-12 0 13 0-10 0-10 0-1 0-6 1-13 0 14 0 8 0 2 0-4 0 11 0 5 1 16-10-10 11-14-1 2 0 3"/><path class="p2" d="M841 923l0-1 0-1 0 2-1 1 0-1 0 1 0-4 0 0 0-1 0 0-1-3 0 0 0-1 0 3 0-2 0 1 0 4-1-1 0 1-36 1 0 0-4 1 4-1 46 1 0-1 0 1 1-2 0 3 0-1 0-2 0 1 0-5 1-1 0 2 0 2 0 0 0-3 0 1 0 2 1-2 0 2 0 5 0-2-11 1 0 2 1-9 0 0 0-1 0 3-25 5 0-2 0-1 0 0 0-2-6 6 1-2 0 2 0 2 0 1 0 0 0-3 0 1 1 0 0 0 0 0 0-3 0-2 0 0 0 2 1-1 0 0 0 0 7 0 0-1 0-1 0 0 0-2-1 1 0-3 0-4 0 3-27 1 27 1-1 4 0-1 0 1 0 2"/><path class="p7" d="M801 891l1 0 0 2 0-5 0 0 0 1 0 0 1-3 10 8 0-2 0 0 0-2 0-3 0-2-1 4 0-1 0 3"/><path class="p3" d="M834 911l-7-5 0 2 0-1 1-1 0-1 0 1 0 1 0 1 0 3 1 21 0-2 0-2-11-12 0 0 0 1 0 12-29-10 54 4-13-14 0 0 0 2 1 0 0 1 0 1 0 1 0 3-8 11 0 4 0-8-1-4 0-12 0 6 0-1 0-2 0-4 0 8-1 0 0 0 0 0 0-6 0 6 0-2 0 8-1-2 0 3 0 0 24-7 0 9-17 8 0-5"/><path class="p9" d="M825 921l0-3 0 5-12 34 0-2 0-1-1 2 0-33 0-12 45 37 0 9 0-17 0-13-1 10 0-12 0-9 0 12 0 4 0 7"/><path class="p6" d="M837 875l0-1 0 0 0-2 0-2 0-1 0 0 1 1 0 5 0 2 0-2 0 0-3 40-1 16 0 5-28-58 0 4 0-1 0 4 0 0 0-2 0-1-1 0 0 2 0-3 0-1 0-3 0-1-1 0 0 0 0 0 0 1 0-1 0 2 0 1 58-23 0-3 0 15 0 8 0 2 0-2 1 2-13 7-1-3 0-4 5 12 0 2 0-5-26 46 0 8-1-5 0 0 0-6 0 2 0-12 13-31 0 1 6 9 0-5 1-5 0-1 0-4 0-3 0-6 0 5-23 3 0-3 0 11 0-4-1-17 0 8 0 2 0 2 0-10 0 6-6 2"/><path class="p4" d="M830 898l0 10 0 0 0-3 0-2 1-6 0 9 0-12 0 12 0-2 0-12 1 6 0 1 0 0 0 7 0 9 0 1 0 8 15-16 1 0 0-3 0-2 0 0 0 2-41 16 0 2"/><path class="p5" d="M833 897l0 0 1-7 0-1 0-5 0 0 0 0 0 2"/><path class="p8" d="M811 887l0 1 1 1 0 0 0-4 0-2 0-2 0 6 29 20 0-4 0 6 0-2 0-4 0 4 1-1 0 2 0-1 0 7 20 29 0-11 0-15-1 15-29-50 0-10 0 22 0 15 1-42 0-15 0 14 0 9 0 29 0-22 0 3 1-7 0-9 0 16 0 33 0-2 0-4 0-9 1 4 0-9 12-2 0 14 0 8 0 0 0-13 0 19 1-16 0-16 0-4 0 12 0-1 0 21 0 6 1-5 0-10-13-10-1-1 0 3 0-3 0 0 0 0 0-1 0 2-10-6 1 10 0 8 0-20 0-4 0 3 0 16 0-3 1 6 0 1 0-7 37-4 0-4-33-6 0 22 0-21 0 0 1 1 0 3 0-4 0 6 0 5 0 5 1-3 10-11 0-1 0 8 0 5-1 6 0 7 0-3 0-1 0 0 0-2 0 0-1-3 0 1 0-4 0-2 0-1 0-2-1 8 0 0 0 2-2-4 0 2 0 0 0 0 0-2-1 2 0 0 0-9"/><path class="p2" d="M838 925l0 0 0-2 0 2-1 2 0 1 0-5 0 0 10 8 0-2 0 0 1-1 0 2 0 1 0 2 0-3 0 0 0 2 1 2 0-1 0 0 0-3 0-5 0 0-23-2 0-1 21 2-7-4 0-1 0 2-43 1 43 0-1 2 0-4 0 2 0 0 9-5 0-2-28 12 0 2 0 3 0-1 0 5 0-11 0 5-1 12 0-12 0 0 10-8 0 12-1-4 0-4 0-4 0 2-1-5 0-1 0 4 0-10 0-4-1-13 0-9"/><path class="p1" d="M834 935l0 1 0-3 0 1-1 1 0 1 0 3 0 1 0-1 0 0-1 2 0-1 3 2 0-1-46-5 0 3 0-2 0 7-1-5 0-3 0 2 0 3 0 1 0 0 0 4-1 7 0 4 0-10 0 2"/></g></g><clipPath id="kc21"><rect x="897" y="843" width="127" height="127"/></clipPath><g transform="scale(.5)"><g clip-path="url(#kc21)"><path class="p3" d="M931 918l1 0-1-2 1 1 0-2-1 0 1 1 0 3 1-3-1 2-1-1 2-13 0 21-1 2 1-4 0 1 0-1 0 1-1 3 1-1-1-2 0 0 2-2 0 2 0-2 0-2 0-3 0-3-1 2 0 0 0 1 0 0-1-2 0 3 0 1 0 0-1-1 0 2-1-2 0 2 0-1 1-3 0 1 0 1 2 2 0 2-1-2 0 1-1 1-1 1 1 0 0 2-1-1 2-7 0 0 0 0 0-1 0 3-1 0 1-10 0 0 0 0 1 3 0 4 0-2-1-1 0 1 5 24-3-36 0 0 0 0-1 2 0 1 0 4 0-3-1 6 1-3-1 5 1-2 0-2-1-3-1 1 1 2 0-3 1 0 0 1-1 1 0 0 0-2"/><path class="p9" d="M922 924l0-18-1 25 1 0"/><path class="p8" d="M933 876l-1-4 2 17-2 3-7 2-2 3-2-24 1 17-2 5 0 20 2-16-1-4 2-1 0 1 1 5 0 8 0 4 1-3 1-2 0 0"/><path class="p1" d="M934 936l-1 1 1 2-1-3 0-1 0-3 0 2 1 1 1-3-1 0 2-3-1 2 4-14-1-7 0 2-2 5 2 2 0 10 3 5 0 1 0-13-3 20 0-1 0 5-1 1-1-3 1 1 0-1 0 0 0 3 0 0-1-2-1-3 0-3-1 1 0 3 0 0 0-1 1-2-1 0 0 0 1-1-2 0 0-1 1-2-1 0 1 0 0 0 2 16 1-6-5 16 1-43 5 13-1 1 0 4"/><path class="p6" d="M923 874l2-8 2 25 0 7-5 5-2 4-2 2 1-3 2 8 5-17 5 8 40-4-42 6-8 10 3-1-3-11-3-14 0-6 5 13 5 0 3-4-1-8 0 0 0-2-2-3-1-2 1 2 0 1 0 0 0-1 0 2-1-1 1 0-7-14-2-1 0 2 0-16-2 4 10 3-6-2 0 0 2 3 0-1 14 25-2 2-8-1 1-4-1-12-2 5-5 8 3 1 3-9 0 4-2 9 5-1-2-16"/><path class="p7" d="M931 871l-5 15-1-2 0 0-1 3 0-2"/><path class="p2" d="M937 910l-1 2 2 32-1-4-4-19-1 1 1 1 0-2 1-2 0 4 0 2 0-1 0 0 4 14 1 6-3-10-1 15 2 2-1-7 2 1 1-11 2-3-2 0 2 4-1 6-1 11 1-6-8-20 0-3 1 2 1 1-1-3-1-3 0-3 8-1-9 4 0 0 0 2 0 3-1 1 0 0 1 0 0 1 0-3 1 2 0-1 0 1 1 1 0 4 1-2-1 0 0-1-1 1 1 2-1 2 4 1 0 3-12-25 2 13 1 2 1 8 4-1 0-13 2 1 0 2 1-7 0-3 2 14-2 9 2-12-3 0-1-4 2-4 2 5-1 10-3 1-1 3 4 2 0 0-3-6 1-10-2-2 0-1-2 0-3 0-2-4 0 0 0-1 1 6 1 1 0-3 1-7-2 1-1 7 0 3 6-15-2-10-2 7 4 2 1 0-2 3 4-1-2 5 0-4 3 0 0 0-3-4-1 3-1-6 0 0 3 3 7 9 3 0 0 4"/><path class="p5" d="M932 898l12 14-7-10 29 14-28-22 0-5 1 9-2-6-3 14 3-2-2-17 0-3 0-3-1 2-2 2 1 4 0 5-1 0 2 1-1 0 0-4 1 1-1 4 0-6-2-1 1 1 27 12-27-14-2 4 1 1 0 3 0 0 2 0 0 3 2-1-4-2 2-3 40 21-39-18-2 2 3-2-1-2 0-2 1-2-1-2 1-3 0 4-17-29 1 2-1 4 2 9-1-2 0-12 6-13 5 8-3-7 1 8 0 3 1 10 2-7"/><path class="p8" d="M923 899l0-6-1-2 0-6 1 2 1 7 1 6 0 2 0 0 0 1-1 3-1 3-1-3 1-5 0 2 1 8 0-5 0 3 0 2 0-6 0 0 0 1 0-2 4 9-2-18 1-14-4-1 1 22 0-1-1-11-2-5 1-18 2 3-1 9 3 3-3 7-1 1-3-1 0 28 5-22 1 1 0 0-1-3 0 1 0 4 1 1-1 3 1 2 1 1 0-4 0-1 0 5 0 2 0 3 1 1 0 3 0-5-2-3 1-4 0-4-1-6 0 1-1 0 0 0 0-4 0 3 1 4-2-1 0 7 1 2"/><path class="p2" d="M934 919l0-1-1 3 0 0 0-4-1 4 1-2-1 1 0-3 0 2 0-1 0-2 1-2 0 1 7 1-7 4-1-1 0 0-1-2 0 2 1 2 0-4-1-1 13-4-11 1 0 4 0 1 0-1 10-31-1-3-1 13-1 7-1-9 5-9 3 13 2-2-1 4 0 11-3-13 0 3-1 7 0-4 0 12 2 8 0 1-8-4 9-1 0-8 1 0-2-1-3 1-2 5 1 7 0 1 3-5-3-12 0 2-2 7-5 22-3-13 0-1 1-3 0 0-1-1 1 1 0-1 0-3 0 0 0 0 0 0-1-4 1-2 1 2 0 2 0 1 1-1-1 2 4 3-6 0 0 4 0-2 0-1 2 1 0-4-1 1 0-3 1 0-1 4 1-4 1 6-3-4 3 0 6-5-5-6 1-9 0 7-5 12 1 5 0 5 2 5 2-11-3-8-1 5 1 8-4 1 0 11-1-10-2-5"/><path class="p1" d="M940 910l-2 8 0-9 4-7-1-3-4 40 2 1 0 1 0-2-6 3 0 1 1 0-1 1 2 0 0-1 1 0 0 1-2 2 0 0 1 0 0-5 0-2"/><path class="p6" d="M925 867l-1 2 6 8 1-1 0-3 1 0-3 3-1-1 2 3 1-3-6-16-1-4 0-2 6 5 2-6 12 4 3 7-7-6-2 13-3-7-5 8 3 3 0 0-1 1 22-12-11 8 49 24-40-18-1-4-1-11"/><path class="p5" d="M932 879l0-2-3 2 26-12-3 0-1 0-7-3 3 4-2 9 1 10 47 30-55-30-1 1-6-2 7 4 15 13-20-5 1-5-11-5-5 6 6-9-3 1 7-6-4-10 0 7 0 1-2 13 8 2 0 4-3-1"/><path class="p4" d="M938 907l-2 3-2 4 0-2-1-3 1-4 0 3-1-1 1 2 1 1-2-4 2 0 1-2-3 2 0 1 0-6 0-3-1 1-1-1 0 0 2 6-1 3 1-2 0-2 1 4-2 4 0 0-1 0-1-1-2-3 1 1-1-1 1 1 2-4 2 1 0-2-1-2-1-1 3-1 0-2-1-1 2-4 1 1-2-1-1 1 0 2 1 0-1 2 1 2"/><path class="p3" d="M931 906l1 12-2-2 1 1-1-4 1 2 1-1-1 1 0 5 0-1 1-23 0-14 3-2 1-3-1 5 3 7 0-6 1 0-4-7 0 7 2-1-4 41 0 6-1 2 3 3 0-3-3 1 3 3 2-3-5-8 1-10 0 9-1-5-1-5 1-3 1 4 4-1 0-10-1 7 0 5-1-5 1 0-1 4-2 5-1-1 1-2 0 1 0-1 0 0-1-3 1 0"/><path class="p7" d="M924 900h0"/><path class="p9" d="M922 903l0 1 0 1-1 2 0 1 0-1 0-7 0 0 2 21 0 5 0 3 1 1 0-3 0-1 0 9 0-5 0 3 0-1-1-4 0-1 0-2 0 4-2 31 2-10-1 2 1 0-1-8-1-4 0 5 0 4 0-2-1-10 1 4-1 1 1-13 0-11-2 31 1-8 0-12 2 6 1 3 1-8 1-28"/><path class="p7" d="M922 918l0-14 0-2 1-3 0-5 0 7 2-12-1 13-2-10 1-10 0-1-2-6-1-13-2 14 1 8 3 2-1-4-1 11 3 5-1 16-1-10 4-14-1 2 0 3"/><path class="p3" d="M933 915l-2-3 0 0 1 2 0 1 0-1 0-3 1 0 0-1 0 0 0 1 0 4-1 1 1-4 0 1-1 4 0-2-1-1-1 2 0-2 0-2 2 3 1 4 0-1 1-1-1-2 0 1 0 2 0 1 1 0-3 2 1-1-1 1 1-2-1-4 0 0 0 0-1 0 1 1 0 6-2 2 1-8-1-1 2-7 2 7-1-1-3-7-1 3-1 7-1 1 1-6 0 7 0-6 0 9-1-8-2-1 4 9-1-6-2 3-1-7 4 6 0 5 0 3 3 6-1-3 2-9 1 8 0-16-3 5 3 1-1 0 0 3-1 4 0-3-1 9 0 2 0-6 2-2 3 0 0 9 1 7 4-13 0 8-1 11-2 6-1-1 1 5-2 1 1-3 2-14-2-10-1 2 0 1 0 8-2-34 1 0-1 0-1 1-1 1 0-2-1 0 0 3 1-2 1 0-1 1-1-1 1-1 0 2-2-4 1-3 0 3 0 3 1 2"/><path class="p6" d="M929 868l1 1 1-1 0 3 0 4 52 43-53-39-2-1 1 3-1-3 1 2 0-2-2-4-2 2 2-2-3 0 11 11-1 5-1 0-2 2-1 4 0 1 1-1 0 5-1 0 0 3 1-6 0-3-2-4 22 24-20-22-6-12 4 7-4 4-2 1-2 6 5 0 7-5 1-3-3-1-10 0-3 10 4 5-4 9 1-13 2 1-1 4 1-8 4 2 5-13-2 0-1 3 0-1 0 4 0-3-1-1 2-4-3 2-1 2 2 3 1 2 0-2-1-4 4 7 0-3 3 0 0 1 0-7 0 3 1 1 2 6-3-6"/><path class="p9" d="M925 898l-4 30 0-1 1-6 1-10 0 6 0 2 0-1 1 8-1 3 1-4-1 5-2-15 1 10-1-9"/><path class="p8" d="M925 884l0 3 0-2-1 2 1-4-1 0 0-5-1 23 0 2 0 1 0 0 1-5 0 4 0 0 0-2 0 6 0 1 0-4-1-11 0 7-1 1 1 1-1 3-1 3 3-7 21-9-22 4-2-4 0 6 0-5 0-1 0 0-1-3 1 3 0-6 1-3 0 4 1-4 1 2"/><path class="p2" d="M934 923l-1-1 1-1 0 2 0 1 0-1 0 1 1-4 0 0-1-1-1 0 0-3 0 0 0-1 1 3-1-2-1 1 1 4 0-1 0 1 0 1 1 0 6 1-5-1-2 1 0-1 1 1 0-2 0 3-1-1-1-2 1 1-1-5 1-1 0 2 0 2 0 0 2-3 0 1 0 2-1-2 0 2 0 5 0-2 0 1 0 2-2-9 1 0 0-1 0 3 0 5 0-2-1-1 0 0 1-2-2 6 0-2 1 2 0 2-1 1 0 0 0-3-1 1-1 0 1 0 1 0-2-3 0-2 0 0 0 2 0-1 0 0 0 0 2 0 0-1 0-1 2 0 1-2 0 1-1-3-1-4 0 3 9 1-10 1 1 4 0-1 0 1 0 2"/><path class="p5" d="M929 895l2 3 0-2 1-3-1 7 1-2 2 3 2 2 1-3-3 1-2-2 1 6"/><path class="p4" d="M933 898l-2 2 11 6-1 0-3-1 1-2-1 0 0 2-1 1 1-1 0 2-1-4-18-7-2 9 5-3-1 8-4-8"/><path class="p1" d="M935 940l-1-1 0 0 0 2 0-3 0 1 0-4 0-1 0 3 0 1 0 0 0 3 0-1 0 2 1 0-2-4 1 4 0 3 0 2 1 3 0-2-1-2 0-3 0-1"/><path class="p2" d="M932 925l1 0 0-2 1 2 1 2-1 1 1-5 0 0-2 8 0-2-2 0 3-1 0 2-1 1 1 2-1-3 1 0 0 2-1 2 1-1 1 0-1-3-1-5 0 0 1-2 0-1-3 2 0-4 1-1 1 2 11 1-12 0 1 2-1-4 1 2 0 0 3-5 1-2 9 12 0 2-2 3 1-1-6 5-2-11 1 5-3 12 0-12-2 0-1-8-1 12 1-4 0-4 2-4 1 2 0-5-2-1 1 4 0-10 0-4-2-13-2-9"/><path class="p9" d="M919 921l-1-3 0 5 7 34 0-2 0-1 1 2 3-33-2-12-9 37 2 9-2-17 0-13 2 10 1-12-1-9 0 12-1 4 1 7"/><path class="p1" d="M938 935l-1 1 0-3-1 1-1 1 1 1 0 3 0 1 0-1 0 0-2 2 1-1 0 2-1-1 5-5 0 3-2-2-5 7 1-5 1-3 3 2 0 3-3 1 2 0 0 4 1 7 3 4-2-10 0 2"/><path class="p5" d="M933 897l1 0 1-7 0-1-1-5 0 0-2 0 0 2"/><path class="p3" d="M931 911l-1-5 0 2 1-1 0-1-1-1 0 1 0 1-1 1 1 3 0 21 0-2-1-2 3-12 0 0 0 1-2 12 9-10-7 4 4-14 0 0-1 2 0 0-1 1 0 1 1 1 0 3-7 11-1 4 3-8-1-4-2-12-1 6 0-1 0-2 2-4 1 8 2 0 5 0 3 0-1-6 1 6 0-2 0 8 2-2-2 3 0 0-2-7-4 9 5 8-1-5"/><path class="p8" d="M926 887l-1 1 0 1 1 0 0-4-1-2 0-2 0 6-1 20 0-4 0 6 1-2-1-4 1 4-1-1-1 2 0-1 0 7 3 29 2-11-2-15 0 15-6-50-3-10 66 22-35 15-27-42 2-15 1 14 4 9 25 29-25-22-3 3 0-7 0-9-1 16-1 33-1-2-1-4-1-9 0 4 0-9 2-2 1 14-2 8 0 0 0-13-2 19 3-16 5-16 1-4-2 12 1-1-1 21-1 6-1-5-2-10-2-10 0-1 1 3 0-3 1 0 0 0 0-1 0 2 22-6-23 10 0 8-1-20-2-4 28 3-28 16 0-3-1 6 1 1 1-7 2-4 3-4 12-6 51 22-55-21-1 0-6 1-1 3-1-4-1 6 0 5-1 5 1-3 3-11 0-1-1 8 1 5 0 6 0 7-1-3 1-1 0 0 0-2 0 0-1-3 1 1 0-4 0-2 0-1 1-2 0 8 21 0-22 2-1-4 0 2 1 0 0 0-1-2-1 2 1 0 0-9"/><path class="p6" d="M928 875l-1-1 1 0 0-2-1-2 3-1 0 0 2 1-1 5 1 2 1-2 0 0-8 40-8 16 1 5 9-58-2 4 2-1 0 4 2 0 2-2-1-1-1 0-1 2-1-3 0-1 0-3 3-1-1 0 1 0-2 0-1 1 0-1 1 2 0 1-2-23-4-3-5 15 3 8 1 2-2-2 1 2 7 7-1-3-2-4 37 12-37 2-4-5 0 46 4 8 3-5-3 0-3-6-1 2 3-12 10-31-1 1-1 9-2-5 1-5-1-1 0-4-1-3 3-6 0 5 9 3 3-3-2 11 5-4-1-17 2 8-3 2 1 2 5-10-2 6-12 2"/><path class="p4" d="M948 898l3 10-1 0-2-3 4-2 5-6-1 9-7-12-5 12-4-2-2-12 4 6 5 1 4 0 1 7-2 9-7 1-5 8-1-16 0 0 1-3-1-2-1 0 0 2 0 16 10 2"/><path class="p7" d="M924 891l0 0 1 2 0-5 0 0-1 1 0 0-1-3 3 8 0-2 0 0-1-2-1-3 1-2 0 4 0-1 2 3"/></g></g><clipPath id="kc23"><rect x="1163" y="843" width="127" height="127"/></clipPath><g transform="scale(.5)"><g clip-path="url(#kc23)"><path class="p1" d="M1250 936l2 1-2 2 0-3 0-1 0-3 0 2-1 1-2-3-1 0 0-3 2 2-12-14-2-7-6 2 9 5 1 2-2 10 2 5 0 1 5-13 10 20-2-1-1 5 1 1-1-3 2 1 2-1-1 0-2 3-2 0 0-2 1-3-2-3 3 1-1 3 1 0-2-1 4-2 1 0-1 0-1-1-2 0 0-1 0-2 2 0 0 0 3 0-5 16 10-6-4 16-17-43 5 13-2 1 2 4"/><path class="p2" d="M1237 910l2 2 10 32-8-4 5-19-2 1-2 1 1-2 4-2 0 4 0 2 0-1-3 0 4 14 3 6-5-10 0 15-1 2 12-7-2 1 10-11 0-3 4 0-8 4-3 6-10 11 7-6-4-20-4-3 0 2 2 1 0-3-2-3 0-3-58-1 64 4-4 0 0 2 2 3 2 1-1 0 3 0 0 1-2-3-1 2 0-1-1 1 0 1 2 4 1-2-1 0 1-1 0 1 2 2-2 2-25 1-1 3-3-25 1 13-12 2 0 8 5-1 5-13-1 1-2 2 4-7-3-3 3 14-6 9-1-12 9 0 13-4 4-4-2 5 1 10 0 1-14 3 9 2-1 0-2-6-3-10-12-2 3-1 5 0 8 0 9-4 2 0-5-1 1 6 10 1 10-3 5-7-10 1-5 7-1 3-8-15 4-10 3 7-13 2 0 0 1 3-3-1 2 5 4-4-2 0-1 0 13-4-9 3-9-6-4 0-8 3-3 9-2 0-4 4"/><path class="p5" d="M1239 898l-4 14 21-10-19 14 12-22-2-5-2 9 1-6-3 14-5-2 3-17-2-3-1-3 0 2-1 2 0 4-2 5 0 0 1 1 1 0 1-4 2 1-3 4 2-6 2-1 0 1-5 12 3-14 0 4 1 1 1 3 0 0-1 0-1 3-1-1 2-2 0-3 2 21-2-18 0 2 0-2-2-2-2-2-3-2 0-2 2-3-2 4 4-29 3 2-5 4-13 9 0-2-1-12 0-13 0 8 5-7 2 8-10 3 2 10 3-7"/><path class="p7" d="M1236 871l1 15-2-2 2 0-1 3 0-2"/><path class="p6" d="M1235 874l1-8 7 25-5 7 11 5-6 4 2 2 4-3-3 8-3-17 6 8-14-4 12 6 3 10 1-1 2-11 9-14-4-6-6 13-13 0 1-4 0-8-1 0 3-2-1-3-2-2 1 2 0 1 1 0 1-1-2 2-3-1-1 0-10-14-5-1 1 2-1-16 1 4-1 3-5-2 1 0 10 3 0-1-4 25 4 2-2-1 2-4-1-12 2 5 1 8-2 1 8-9-3 4 3 9-1-1 7-16"/><path class="p3" d="M1245 918l0 0 0-2 6 1-3-2 3 0-4 1 4 3-4-3-3 2-3-1 8-13-15 21-1 2-3-4-5 1-2-1 8 1 0 3 1-1 1-2 0 0-1-2 6 2-3-2-1-2-2-3 4-3 2 2 0 0 3 1 1 0 2-2-6 3-1 1 1 0-5-1 1 2 0-2-3 2-2-1-3-3 1 1 2 1 1 2 3 2-1-2 0 1 1 1 3 1 4 0 1 2 2-1 7-7-2 0-3 0-3-1 0 3 2 0-10-10 3 0 1 0 3 3-2 4-6-2-1-1 1 1 27 24-22-36-2 0 2 0-3 2-1 1 2 4 3-3-24 6 2-3 16 5 4-2-2-2 1-3 4 1 1 2-2-3 2 0-1 1 3 1 2 0-1-2"/><path class="p8" d="M1234 876l-3-4 1 17 4 3-7 2 2 3 4-24-5 17-1 5 8 20-4-16-2-4 1-1 2 1 0 5-1 8 0 4 0-3 3-2 0 0"/><path class="p9" d="M1231 924l-1-18-2 25-2 0"/><path class="p1" d="M1250 910l4 8 4-9 6-7-9-3-3 40-1 1 2 1-1-2-4 3-1 1-1 0 0 1 0 0 1-1 1 0 0 1 0 2 0 0 1 0-1-5 0-2"/><path class="p6" d="M1241 867l-1 2-3 8 0-1 2-3 0 0-1 3 2-1-1 3-3-3 26-16-6-4-1-2 4 5-7-6 4 4 8 7 4-6-4 13 4-7-31 8 2 3 0 0 1 1-12-12 3 8 6 24 2-18-6-4 1-11"/><path class="p5" d="M1240 879l-1-2-1 2-8-12 6 0 6 0-10-3-5 4-2 9 4 10 6 30 3-30 7 1 1-2 5 4-16 13 10-5 8-5-1-5-17 6-2-9 2 1 0-6-1-10 2 7-11 1 3 13 8 2 0 4-1-1"/><path class="p2" d="M1245 919l2-1 2 3-2 0 3-4 0 4 0-2-6 1-2-3-4 2 4-1 0-2 3-2-1 1-38 1 39 4-2-1 0 0 0-2 2 2-1 2 2-4-1-1-58-4 59 1-1 4 0 1-2-1-6-31-5-3 13 13-4 7 11-9 4-9 0 13-4-2 4 4-5 11-12-13-9 3 10 7-3-4 2 12 8 8-4 1-56-4 62-1 5-8-3 0-1-1 1 1 3 5-10 7 3 1 5-5-5-12 6 2 4 7-27 22 5-13 2-1 0-3 0 0-1-1-1 1 2-1 0-3-1 0 1 0-1 0 1-4-1-2 2 2 2 2 2 1 3-1 0 2-38 3 34 0 2 4-1-2 0-1-2 1 0-4 5 1 1-3 9 0 2 4-9-4 5 6-7-4 1 0-53-5 52-6 8-9-3 7 15 12 3 5-1 5-5 5-5-11-7-8 3 5 10 8-5 1-9 11-3-10 3-5"/><path class="p3" d="M1246 906l0 12 6-2 6 1-3-4-4 2-1-1 2 1-1 5 1-1-8-23-6-14 3-2-11-3 13 5 23 7 2-6 2 0-3-7-11 7-7-1-14 41 0 6 10 2-7 3-14-3 16 1 5 3-11-3-25-8 26-10-8 9 2-5-31-5 29-3-10 4 4-1-11-10-18 7 35 5-7-5-12 0 15 4 19 5 1-1-6-2-50 1 50-1 2 0 3-3 1 0"/><path class="p8" d="M1237 899l0-6-2-2-2-6 1 2-1 7-3 6 3 2 2 0-3 1 3 3 0 3-1-3 2-5-1 2-2 8-1-5 0 3-1 2-1-6 0 0 2 1 1-2-12 9-3-18-3-14-3-1-1 22 2-1 3-11 4-5 5-18 2 3 1 9-1 3 0 7 7 1 3-1 7 28-9-22 2 1-1 0 2-3-2 1-2 4-1 1 0 3 1 2 0 1 0-4-1-1 0 5-1 2 2 3-1 1 0 3-3-5 0-3-1-4 0-4 3-6-2 1 0 0 3 0 0-4-3 3-2 4 1-1-2 7 0 2"/><path class="p7" d="M1242 900h0"/><path class="p4" d="M1227 907l-3 3 3 4 7-2 0-3 4-4-25 3 22-1-4 2 3 1 0-4 1 0-8-2 1 2-6 1-2-6-5-3 3 1-4-1-6 0-8 6 6 3 5-2 7-2 0 4 0 4 1 0 1 0 5-1-1-3 0 1-3-1 1 1-5-4 1 1-1-2 1-2 6-1 2-1 1-2-4-1-4-4 7 1-4-1-3 1 2 2 0 0-7 2 0 2"/><path class="p9" d="M1229 903l1 1 0 1 0 2 1 1 0-1 0-7 0 0 1 21 0 5-1 3 0 1 1-3 0-1-1 9-1-5 0 3 0-1 1-4 1-1-1-2 0 4 8 31-2-10 0 2-2 0 1-8 0-4-1 5-1 4 0-2-2-10 1 4-2 1-2-13 1-11-1 31 2-8 0-12 2 6 0 3-2-8 1-28"/><path class="p8" d="M1235 884l-1 3 2-2-1 2 0-4-1 0 1-5 0 23 0 2-1 1 1 0 0-5 2 4 0 0 0-2 0 6-2 1-2-4-5-11 4 7 0 1 4 1 0 3 0 3-5-7 2-9-5 4 0-4 1 6 3-5-2-1-1 0 1-3 0 3 0-6 1-3-1 4 0-4 1 2"/><path class="p5" d="M1239 895l0 3 1-2 1-3-1 7 0-2-2 3 0 2-1-3-2 1 1-2 2 6"/><path class="p1" d="M1254 940l-1-1 1 0 1 2 2-3-2 1-1-4-1-1-1 3-1 1-1 0 1 3 2-1-1 2 4 0-3-4-1 4 0 3 0 2 1 3-1-2 0-2 1-3-1-1"/><path class="p3" d="M1238 915l3-3-4 0 4 2 1 1-2-1-2-3 2 0-3-1 7 0 1 1 2 4 1 1 0-4-1 1-11 4-3-2 0-1 5 2-1-2 1-2 5 3 7 4 1-1-2-1 0-2-5 1 0 2-3 1-35 0 37 2-4-1-1 1 1-2 1-4 0 0 1 0 2 0-3 1-55 6 77 2-11-8 14-1 4-7 2 7-9-1 4-7 1 3-4 7-69 1 70-6 6 7-10-6-4 9-2-8 1-1-1 9 2-6-6 3 8-7-12 6 6 5 3 3 5 6-4-3 6-9-3 8 1-16-11 5 8 1 6 0 2 3 5 4-5-3-5 9-2 2 7-6-6-2 4 0-12 9 2 7 7-13 2 8 7 11 0 6-68-1 61 5-4 1 5-3-3-14-62-10 45 2-6 1 8 8-3-34-53 0 43 0 3 1 3 1 1-2-1 0-5 3 1-2-2 0-1 1-1-1-3-1 5 2 4-4-3-3 0 3-3 3-5 2"/><path class="p2" d="M1245 923l-1-1-4-1 2 2 1 1 2-1 1 1-2-4 1 0 1-1 0 0 6-3 0 0-3-1-2 3 2-2-2 1-3 4-1-1 0 1-1 1-2 0-38 1 36-1 3 1-2-1 1 1-3-2 0 3 0-1 1-2 3 1-3-5-2-1 1 2 2 2 0 0 0-3 0 1 0 2 1-2 2 2 2 5 3-2 1 1 3 2-5-9 2 0-1-1 4 3-7 5 1-2 0-1-1 0 2-2 4 6 1-2 1 2-1 2-3 1-2 0-1-3 2 1-3 0-1 0-4 0 2-3-1-2 0 0 2 2 1-1 2 0 0 0-4 0 3-1 1-1 0 0 1-2-3 1 1-3-3-4-3 3-30 1 33 1 0 4-1-1-2 1-2 2"/><path class="p6" d="M1239 868l0 1 1-1-1 3-2 4 2 43-4-39 0-1 0 3 2-3 0 2 2-2-5-4-3 2 0-2 1 0 6 11-3 5-1 0 1 2 0 4-2 1-2-1 0 5 0 0 0 3 1-6 0-3 3-4 5 24-3-22 13-12-3 7-7 4-5 1 1 6 1 0 2-5 1-3 6-1 0 0-1 10 3 5 1 9-6-13 5 1 2 4-1-8-2 2-7-13 1 0-1 3 0-1-2 4 0-3 1-1 0-4 1 2-1 2-2 3 0 2 1-2 1-4-3 7-1-3-1 0 0 1 1-7 2 3-1 1 0 6 0-6"/><path class="p7" d="M1240 918l-2-14 0-2-2-3-2-5-1 7 5-12 1 13-1-10 1-10-5-1 0-6 3-13 2 14 2 8-3 2 0-4-3 11 2 5 1 16 1-10-9-14 1 2 0 3"/><path class="p9" d="M1232 898l-2 30-1-1-1-6 1-10 0 6-1 2 1-1 0 8 0 3 0-4 1 5 3-15-1 10 0-9"/><path class="p4" d="M1223 898l1 2 5 6-1 0 5-1-1-2-4 0 0 2 5 1 0-1 0 2-5-4-31-7-7 9 11-3-9 8 1-8"/><path class="p2" d="M1248 925l1 0-3-2 0 2 0 2 3 1-1-5 0 0 0 8 0-2 1 0 3-1 2 2-1 1-5 2-1-3 1 0-1 2-4 2-2-1 1 0 0-3 3-5 2 0 0-2 1-1 1 2-10-4-2-1 2 2-40 1 37 0 2 2-1-4 0 2 2 0 1-5 1-2 9 12 11 2-3 3 5-1-9 5-1-11-1 5 6 12 6-12 0 0-34-8-3 12-6-4 2-4-6-4-9 2 43-5-7-1 5 4 10-10 5-4 1-13-6-9"/><path class="p3" d="M1224 911l3-5-1 2 2-1-2-1 2-1-2 1 4 1 5 1-5 3 29 21 1-2-6-2-4-12-4 0 2 1 4 12-55-10 46 4-10-14 2 0 6 2-2 0 0 1 0 1-2 1 1 3 25 11 3 4 0-8-3-4-7-12-4 6-13-1 4-2 13-4 8 8 0 0 0 0-26 0-1-6-7 6 13-2-1 8-2-2-6 3-7 0-5-7 8 9-46 8 18-5"/><path class="p9" d="M1228 921l-1-3 2 5-1 34 1-2-1-1 0 2-2-33 1-12 7 37-4 9 1-17 2-13 0 10-1-12-4-9-1 12 4 4 0 7"/><path class="p7" d="M1232 891l-1 0 1 2 0-5 0 0 0 1 1 0-1-3 5 8-1-2-1 0 1-2 1-3 0-2 0 4 1-1 1 3"/><path class="p1" d="M1251 935l1 1-2-3-2 1 0 1 0 1-2 3 2 1 0-1 2 0 0 2 1-1-2 2 2-1-26-5 6 3 5-2 7 7 0-5-1-3 6 2-7 3 5 1 2 0 3 4-1 7-1 4 1-10 4 2"/><path class="p4" d="M1229 898l6 10-1 0 3-3 3-2-16-6-6 9 29-12 8 12-1-2 2-12 12 6-7 1 1 0 5 7 2 9-18 1-12 8-15-16 4 0-2-3-6-2 2 0-5 2-22 16 7 2"/><path class="p8" d="M1237 887l-1 1-1 1 2 0 0-4 1-2-1-2 0 6-5 20 0-4 1 6 0-2-1-4 2 4 0-1-1 2 1-1-1 7-13 29-2-11 0-15-1 15 19-50 7-10-4 22-6 15 18-42-5-15 2 14-5 9-2 29 11-22-1 3-2-7 2-9-1 16 2 33-1-2 0-4-8-9 4 4-5-9 8-2 2 14-6 8-1 0 8-13-2 19 0-16-5-16 7-4-9 12 5-1 1 21 2 6-8-5-6-10 0-10-2-1 0 3 1-3 1 0 0 0-1-1-1 2 5-6-8 10-4 8-3-20 6-4 9 3-18 16-5-3-1 6 2 1-9-7 6-4 10-4 19-6-11 22 12-21-1 0-8 1 0 3 1-4-3 6-1 5 1 5 0-3-1-11-1-1-1 8-3 5-3 6-2 7 5-3 0-1 0 0-1-2 1 0-1-3 4 1-1-4 1-2 1-1 1-2-1 8 4 0-5 2 2-4-2 2-1 0-2 0-1-2 1 2 1 0-3-9"/><path class="p6" d="M1233 875l2-1 1 0 0-2-3-2 2-1 3 0 1 1 0 5 2 2-2-2 1 0 19 40-4 16 3 5-24-58 0 4-1-1-1 4-2 0 2-2 1-1 1 0 1 2-1-3-1-1-2-3 1-1 1 0 2 0 1 0 1 1 1-1-2 2-1 1-9-23 2-3 4 15 3 8-5 2 10-2-1 2-7 7 0-3 1-4 8 12-13 2-3-5 9 46 3 8-5-5-6 0 5-6 4 2-2-12-2-31-2 1 7 9 0-5-2-5 1-1 0-4 0-3-1-6 2 5-12 3 0-3-2 11 1-4 4-17 6 8-2 2 1 2 9-10-1 6-4 2"/><path class="p5" d="M1238 897l0 0 1-7 2-1 0-5-3 0-1 0 1 2"/></g></g><clipPath id="kc24"><rect x="1296" y="843" width="127" height="127"/></clipPath><g transform="scale(.5)"><g clip-path="url(#kc24)"><path class="p1" d="M1326 936l0 1 0 2 0-3 0-1-1-3 0 2 0 1 0-3 1 0 0-3 0 2 5-14-2-7 0 2 1 5-3 2 1 10 0 5-1 1-1-13 3 20 1-1-1 5 0 1 1-3 1 1-1-1 0 0-1 3-2 0 0-2 0-3 1-3 0 1 0 3-1 0 1-1-1-2 2 0 0 0-1-1 0 0 0-1-1-2 1 0 1 0-2 0 0 16 3-6-5 16 6-43-6 13 0 1 0 4"/><path class="p6" d="M1317 874l-7-8-2 25 2 7-3 5 1 4 2 2 0-3 1 8 0-17 1 8 1-4-5 6 7 10 3-1 1-11 0-14-2-6 0 13-1 0 0-4 0-8 1 0 0-2 0-3 1-2 0 2 1 1-1 0 1-1-1 2 0-1-1 0 3-14 0-1-4 2 3-16 4 4 1 3-3-2-2 0-10 3 3-1 11 25-1 2-5-1 5-4-1-12 5 5-1 8-1 1-2-9-5 4 0 9 2-1-1-16"/><path class="p5" d="M1316 898l1 14-2-10-3 14-1-22 2-5-3 9 1-6-2 14-2-2 13-17 0-3 0-3 0 2-2 2 0 4 0 5 0 0 0 1 0 0 1-4 0 1 0 4 0-6 0-1 0 1-7 12 5-14 0 4 0 1-1 3-1 0-1 0 1 3 0-1-1-2 1-3 0 21 2-18-1 2 2-2 0-2 0-2 1-2 0-2 1-3-1 4-5-29 3 2 1 4 0 9 1-2 0-12 0-13-3 8 0-7-3 8-4 3 1 10 0-7"/><path class="p7" d="M1323 871l-7 15 0-2 0 0-2 3 0-2"/><path class="p9" d="M1318 924l-1-18-1 25-1 0"/><path class="p2" d="M1327 910l1 2 1 32 0-4-1-19 0 1 0 1-1-2 2-2 0 4 1 2 0-1-1 0-10 14-5 6-3-10 3 15 2 2-1-7-1 1 0-11 3-3-2 0 0 4 5 6 0 11-5-6 12-20 0-3 0 2-2 1 1-3 0-3 1-3 59-1-51 4-1 0 1 2-2 3-1 1-2 0-2 0-1 1 0-3 2 2 0-1-2 1-1 1 0 4-1-2 0 0-1-1 2 1-1 2-1 2-3 1 4 3 9-25-1 13-3 2-1 8-5-1-1-13 0 1-7 2 0-7-1-3-4 14-1 9 0-12 0 0-3-4 6-4 5 5 6 10-3 1 1 3 2 2 4 0 1-6 5-10-7-2 4-1 0 0 5 0 2-4 0 0-5-1 4 6-2 1-1-3 7-7-9 1-1 7-5 3-7-15-4-10 3 7 8 2-2 0 4 3 5-1-2 5-2-4 2 0 0 0 2-4-1 3-4-6 0 0 5 3 0 9 1 0-1 4"/><path class="p8" d="M1320 876l-2-4-1 17-3 3-7 2 2 3 0-24 3 17 0 5 1 20 2-16 0-4 0-1 1 1 1 5 1 8 0 4-1-3 2-2 0 0"/><path class="p3" d="M1335 918l3 0-1-2 0 1 3-2 0 0-2 1-2 3 1-3-1 2 2-1 6-13-18 21 1 2-4-4 6 1-1-1 2 1 0 3-2-1-3-2 0 0 4-2 0 2 5-2-3-2 0-3-1-3-1 2 0 0-1 1 1 0 1-2 0 3 2 1-1 0 0-1 0 2 3-2 0 2 1-1 0-3 1 1-2 1-3 2-1 2-1-2 0 1 0 1 4 1 1 0 1 2-4-1 10-7-4 0 1 0-1-1 3 3 0 0-2-10 2 0 1 0 3 3 2 4 2-2 0-1-2 1-30 24 15-36 3 0-2 0 2 2 0 1-1 4-2-3 3 6 1-3 3 5-3-2-1-2 2-3 0 1 3 2 1-3-2 0-3 1-3 1 2 0 0-2"/><path class="p1" d="M1330 910l0 8 0-9-1-7-1-3-5 40 0 1 0 1-1-2 2 3 0 1 1 0 0 1-1 0 0-1-1 0-1 1 1 2-1 0 0 0-1-5 1-2"/><path class="p4" d="M1325 907l0 3-3 4 3-2 0-3 1-4 0 3 1-1-2 2-1 1 2-4 3 0 0-2-7 2 1 1-2-6-1-3-1 1-1-1 0 0 3 6-2 3-1-2 1-2-1 4 1 4 1 0 0 0 2-1 1-3 3 1 0-1-1 1-2-4-1 1-3-2 2-2-1-1-1-1 2-2-1-1 3-4 2 1 0-1 1 1-1 2 1 0-1 2 1 2"/><path class="p2" d="M1326 919l1-1-3 3 1 0 0-4 2 4 0-2 0 1-1-3-1 2 1-1 0-2 0-2 0 1 65 1-64 4 0-1 1 0-1-2 0 2 1 2 1-4-1-1 67-4-69 1 0 4 1 1 0-1-6-31 0-3 3 13-5 7-1-9 3-9 1 13-5-2-1 4-1 11 3-13 4 3-3 7-5-4 2 12 2 8 1 1 87-4-81-1-1-8-4 0 1-1 2 1-3 5-1 7 2 1 7-5 8-12 1 2-3 7-26 22 17-13 0-1-1-3 1 0-1-1-1 1 1-1-1-3 1 0 0 0 0 0-1-4 0-2-2 2 1 2 2 1 1-1 0 2 78 3-78 0-1 4-2-2 1-1 0 1-1-4 2 1-2-3 8 0-8 4 2-4 0 6-6-4 0 0 75-5-73-6-1-9 0 7-1 12-1 5 7 5 5 5-1-11 3-8 3 5 6 8-7 1-8 11 0-10-4-5"/><path class="p5" d="M1314 879l0-2 2 2 7-12 0 0-2 0 3-3-1 4 2 9-4 10-5 30 0-30 3 1-3-2 2 4-5 13 7-5 1-5 2-5-15 6 1-9 0 1 0-6 3-10-1 7-3 1-1 13 0 2 4 4 2-1"/><path class="p3" d="M1335 906l-4 12 1-2-2 1 1-4-1 2 4-1-3 1 1 5 2-1 24-23 8-14-15-2-7-3-1 5 11 7-6-6-12 0 3-7 3 7 7-1-25 41 6 6-4 2-3 3-9-3 12 1-8 3 4-3-2-8-1-10 5 9-3-5 0-5-5-3 1 4-1-1 11-10 2 7-9 5-7-5 2 0-3 4 22 5 0-1-1-2 3 1-2-1 2 0-4-3-2 0"/><path class="p8" d="M1312 899l-1-6 1-2-1-6 0 2 1 7-1 6 1 2-1 0 1 1 6 3 0 3-2-3-1-5 1 2 0 8-1-5-1 3 0 2-1-6 2 0 1 1 0-2 1 9-1-18-2-14 2-1-2 22 0-1 2-11-3-5-2-18 4 3-1 9 0 3 2 7 3 1-4-1-2 28 2-22 1 1 0 0-3-3 0 1 1 4 0 1 3 3 0 2 1 1 0-4 0-1 0 5 0 2 0 3-1 1-1 3 0-5 1-3-1-4 0-4 0-6-1 1 1 0 0 0-1-4 1 3 0 4-1-1 0 7 0 2"/><path class="p7" d="M1309 900h0"/><path class="p9" d="M1323 903l-1 1 1 1-1 2 1 1 0-1 0-7 1 0-5 21 1 5 0 3 1 1-1-3 0-1 0 9 0-5 0 3-1-1 0-4 1-1 0-2 0 4 3 31 0-10-1 2 1 0 1-8 1-4-2 5 1 4-2-2-5-10-3 4 1 1-1-13 0-11 1 31 1-8-4-12 2 6 1 3 2-8-2-28"/><path class="p6" d="M1319 867l0 2-1 8-1-1 0-3 1 0 0 3-1-1 1 3 0-3-6-16 1-4-1-2-2 5 3-6 0 4-2 7-3-6-1 13 1-7 9 8-1 3 0 0 1 1-3-12 3 8-1 24-3-18 6-4 2-11"/><path class="p7" d="M1315 918l1-14 4-2-1-3-1-5-1 7 3-12-1 13 2-10-1-10 0-1-1-6-3-13-2 14 0 8 1 2 3-4 2 11 4 5-1 16-2-10-7-14 0 2 0 3"/><path class="p3" d="M1331 915l2-3-1 0 0 2 0 1-2-1-1-3 1 0 1-1 1 0 5 1 4 4-1 1-1-4 0 1-1 4 0-2 4-1-1 2-1-2-2-2 1 3-5 4 1-1-4-1-3-2-1 1 0 2-1 1 2 0-3 2 2-1 0 1 1-2 3-4-2 0 1 0-1 0 0 1 12 6 1 2 6-8 2-1-4-7-3 7-2-1 0-7-3 3-12 7 11 1-1-6-7 7-2-6 10 9 11-8 11-1-1 9-5-6-9 3-2-7 8 6 2 5 5 3-8 6 0-3 1-9 3 8-12-16-7 5-5 1 0 0 14 3-7 4 3-3-9 9 5 2 4-6-7-2-2 0 4 9-10 7-1-13-4 8 6 11 4 6 5-1 4 5-11 1 7-3-8-14-4-10-6 2 5 1 3 8 4-34 0 0 1 0 0 1-2 1 0-2-2 0 0 3 2-2-3 0-2 1 3-1-3-1 4 2 6-4 2-3 0 3-3 3-2 2"/><path class="p2" d="M1322 923l-1-1-1-1 1 2 2 1 0-1 1 1 0-4 2 0-1-1 2 0-1-3 0 0-1-1 1 3-1-2 1 1-1 4-1-1 0 1 1 1-1 0 84 1-79-1-1 1-1-1 0 1-3-2-1 3 1-1 1-2-1 1 0-5 2-1 0 2-1 2 0 0 1-3 0 1-1 2 2-2-1 2-1 5 2-2 0 1 1 2-2-9-1 0 1-1 1 3 0 5-1-2 2-1 0 0-1-2-6 6 2-2 1 2 1 2 0 1 1 0-1-3-1 1-1 0 1 0 0 0 2-3 2-2 1 0-1 2 0-1 0 0 0 0 2 0-1-1 0-1 1 0 0-2-2 1 0-3-1-4 2 3 49 1-47 1-1 4-1-1 0 1 0 2"/><path class="p1" d="M1321 940l1-1 0 0 0 2 0-3 0 1 0-4 0-1 1 3 1 1 0 0 0 3-1-1 0 2 0 0 0-4 1 4 0 3 0 2 0 3 1-2-1-2 0-3 0-1"/><path class="p4" d="M1332 898l-2 2-14 6 0 0 1-1 1-2 1 0-2 2-1 1 2-1 0 2 0-4 13-7-1 9 5-3-2 8-5-8"/><path class="p6" d="M1316 868l0 1 1-1 1 3-1 4-3 43 2-39 0-1 0 3 2-3 0 2-1-2 1-4 0 2-1-2 1 0-3 11 1 5 1 0 0 2-1 4-1 1 1-1 0 5 1 0 0 3 1-6-1-3-2-4-4 24 4-22 5-12 0 7 1 4-1 1-5 6-3 0-3-5-1-3 4-1-5 0 1 10 1 5-2 9 5-13-2 1 1 4 3-8-1 2 4-13 0 0 1 3 0-1-1 4 1-3-2-1-1-4 1 2-1 2 0 3 1 2 0-2 1-4 0 7 0-3 0 0 0 1 0-7 0 3 0 1-1 6-1-6"/><path class="p9" d="M1318 898l2 30-1-1-1-6 1-10 0 6 0 2 0-1-1 8 1 3 0-4 0 5-4-15 0 10-2-9"/><path class="p5" d="M1317 895l0 3 0-2-1-3 0 7-1-2 0 3 0 2 2-3 0 1-1-2-1 6"/><path class="p8" d="M1317 884l-1 3-1-2 1 2-1-4 0 0-1-5 1 23 0 2 0 1 0 0 1-5 1 4-1 0 1-2 0 6-1 1 1-4 0-11 1 7-2 1 0 1-1 3 2 3-3-7-1-9 4 4 0-4-2 6 2-5 0-1-1 0 2-3-1 3 1-6 0-3 0 4-3-4-1 2"/><path class="p8" d="M1314 887l0 1 0 1-1 0-1-4 0-2 1-2 2 6 0 20 1-4 1 6-1-2-1-4 0 4 1-1 1 2 0-1-1 7 4 29 3-11-2-15 2 15 0-50 0-10-10 22-3 15 5-42-1-15-2 14-3 9 4 29-2-22 0 3 0-7-3-9 1 16 3 33 1-2-2-4-1-9-2 4 3-9-1-2-3 14 2 8 0 0-1-13 2 19 4-16 0-16-4-4 0 12 1-1 5 21-1 6-2-5-1-10 4-10 1-1-1 3 1-3-1 0-1 0 0-1 1 2-4-6 10 10 0 8-2-20 2-4-10 3 9 16-3-3 0 6-3 1 1-7 4-4-1-4-4-6-1 22 0-21 4 0-2 1-1 3-1-4 1 6 0 5 0 5-1-3-3-11 0-1-2 8 0 5 0 6 2 7 1-3 0-1 0 0 0-2-1 0 0-3 0 1-1-4 1-2 0-1-1-2 2 8 4 0-5 2 0-4 0 2 1 0 0 0-1-2 1 2 1 0 0-9"/><path class="p3" d="M1330 911l6-5 0 2-1-1-1-1 1-1-2 1 4 1 0 1-1 3-4 21 0-2 1-2-10-12 1 0-2 1 4 12 83-10-71 4-4-14-1 0-2 2-1 0-3 1 2 1-2 1 1 3 8 11 3 4 4-8-3-4-9-12 6 6 1-1 1-2 5-4-2 8 10 0 9 0-2 0-6-6 2 6-3-2-11 8 8-2-2 3-10 0-2-7 17 9-22 8 9-5"/><path class="p4" d="M1314 898l-1 10-2 0 8-3 1-2-3-6 9 9-7-12-5 12 3-2-2-12-1 6-2 1-2 0 4 7-3 9 2 1-2 8 17-16 1 0-1-3 2-2 1 0 2 2-10 16-7 2"/><path class="p5" d="M1318 897l-1 0 0-7 0-1 1-5 0 0 1 0-2 2"/><path class="p7" d="M1318 891l0 0 0 2-2-5 0 0-1 1-2 0 0-3 2 8 0-2-1 0 0-2 0-3-1-2 0 4-1-1 1 3"/><path class="p9" d="M1311 921l1-3 5 5-1 34 0-2-1-1 0 2 3-33 1-12 9 37 1 9 0-17 2-13-2 10 1-12 1-9-2 12 1 4-2 7"/><path class="p2" d="M1329 925l-2 0 2-2 0 2 1 2 1 1-2-5-2 0-2 8 1-2 0 0-2-1 0 2-3 1-1 2 1-3-1 0-1 2 0 2 1-1-1 0 2-3-1-5 1 0 4-2 0-1 1 2 4-4 0-1 1 2 56 1-58 0 1 2-1-4 0 2 1 0-1-5 1-2-18 12 3 2 7 3 6-1 6 5-5-11 1 5 4 12-5-12-5 0 12-8-1 12-1-4 0-4 3-4 2 2-24-5-1-1-4 4 5-10-1-4-6-13 2-9"/><path class="p1" d="M1327 935l-1 1 0-3 0 1 0 1 0 1 0 3 0 1 0-1 1 0 0 2-1-1-1 2 0-1 3-5-2 3-2-2 1 7 0-5-1-3 0 2 1 3 0 1-2 0 1 4-2 7-1 4 0-10 0 2"/><path class="p6" d="M1316 875l0-1 1 0-1-2 1-2 0-1 0 0 1 1-1 5 1 2-1-2 1 0-5 40 0 16 3 5-1-58 1 4-1-1 1 4 0 0 0-2 1-1 0 0 1 2 0-3-1-1 1-3-1-1 2 0-2 0 1 0-1 1 0-1 0 2 0 1-2-23 4-3 3 15 3 8-3 2 0-2-1 2-3 7 0-3 1-4-3 12 1 2-1-5-3 46 1 8 1-5-1 0 2-6-1 2 3-12-1-31-2 1 1 9 0-5 0-5 1-1-1-4 0-3 0-6 0 5-1 3 0-3 1 11-4-4 2-17 1 8-4 2 1 2 2-10-1 6 3 2"/></g></g><clipPath id="kc25"><rect x="1428" y="843" width="127" height="127"/></clipPath><g transform="scale(.5)"><g clip-path="url(#kc25)"><path class="p2" d="M1465 910l-3 2 3 32-1-4 6-19 1 1 2 1 0-2 0-2-1 4 0 2 2-1 0 0 11 14 1 6 0-10-3 15-2 2-3-7 2 1-2-11-3-3 1 0 3 4-2 6 5 11 4-6-8-20-1-3-1 2 0 1-1-3 0-3 0-3-31-1 27 4 2 0-2 2 2 3 1 1-1 0 1 0 0 1 0-3 1 2 1-1-1 1 1 1-1 4 0-2-3 0 3-1-1 1 1 2 0 2 17 1-7 3-11-25 2 13 2 2-4 8 4-1 1-13 0 1 3 2-2-7 2-3-1 14 1 9 0-12 5 0 2-4-2-4-2 5-9 10-1 1 1 3-4 2 3 0 1-6-2-10 3-2 2-1-5 0 0 0-1-4 3 0 3-1-5 6-3 1 0-3 1-7 4 1 2 7-3 3 0-15-1-10 0 7-4 2-2 0-2 3-1-1 3 5 7-4 0 0 7 0-1-4 3 3 2-6 2 0-3 3 3 9-2 0-3 4"/><path class="p8" d="M1472 876l2-4 5 17 4 3 12 2-4 3-1-24 2 17-3 5 3 20 4-16-1-4 1-1-1 1-2 5 0 8-1 4-1-3-1-2-1 0"/><path class="p1" d="M1474 936l1 1 1 2-1-3 1-1 0-3-1 2-2 1 1-3-1 0-1-3-1 2-11-14 1-7 2 2 3 5 0 2-1 10-5 5-6 1 3-13 13 20 0-1 0 5 0 1 0-3 0 1 2-1-1 0 1 3-1 0 2-2-2-3 0-3 1 1 0 3 1 0-1-1 1-2-1 0 1 0 0-1 1 0-1-1 1-2 0 0 0 0 0 0 3 16 0-6 3 16 2-43-6 13 0 1 0 4"/><path class="p9" d="M1500 924l0-18-3 25 9 0"/><path class="p6" d="M1489 874l1-8-1 25-5 7 5 5-1 4 4 2 5-3 1 8 1-17 3 8 2-4-3 6-4 10-3-1 3-11 2-14 5-6 0 13-11 0 1-4 0-8 1 0 0-2 0-3 0-2 0 2 2 1 0 0-1-1 0 2 0-1-2 0-13-14 0-1 3 2 3-16-5 4-4 3 5-2-1 0 11 3 2-1 1 25-9 2 0-1-3-4-2-12-5 5-2 8 0 1 7-9-6 4 5 9 2-1 5-16"/><path class="p5" d="M1486 898l-2 14-5-10 5 14 3-22 3-5 4 9 5-6 3 14 0-2-18-17 0-3 3-3 1 2-1 2 0 4 2 5-2 0 0 1-1 0-1-4 0 1 1 4 2-6 1-1 0 1 3 12-2-14-2 4 0 1 0 3 0 0 3 0-2 3 1-1-3-2 0-3 1 21-1-18-2 2 1-2 0-2-1-2 0-2 1-2-1-3 3 4 0-29-3 2-6 4-1 9 5-2-3-12 4-13 7 8-1-7 3 8 0 3-3 10-3-7"/><path class="p7" d="M1484 871l8 15-1-2 1 0 1 3 0-2"/><path class="p3" d="M1469 918l1 0 0-2 0 1-1-2-2 0 0 1 1 3-2-3-1 2-2-1 13-13 0 21 0 2 1-4-3 1 2-1 0 1-1 3 1-1 2-2 0 0-2-2-2 2-1-2 1-2 0-3 0-3 1 2 1 0 0 1 3 0-2-2-2 3 1 1-1 0-1-1 1 2-2-2 2 2 0-1 1-3 0 1-2 1 2 2 0 2-3-2 1 1 0 1-2 1-1 0 2 2 2-1 1-7 2 0 1 0 0-1-3 3-1 0-5-10-1 0 0 0-2 3 0 4-1-2 0-1 0 1 8 24 0-36-2 0 0 0-1 2 2 1 0 4 2-3 4 6 0-3-7 5 1-2 1-2-1-3 1 1-1 2 0-3-1 0 2 1-1 1 0 0 0-2"/><path class="p5" d="M1486 879l1-2 1 2 0-12 5 0-4 0-2-3 0 4 2 9 0 10 1 30-3-30 0 1 1-2 0 4 5 13-8-5 2-5 4-5 9 6-3-9-4 1-4-6-1-10 8 7 0 1 4 13 6 2 0 4 8-1"/><path class="p4" d="M1485 907l0 3-1 4-2-2 1-3-1-4 1 3 0-1 2 2-1 1-2-4 0 0-1-2 0 2 1 1 0-6-1-3-1 1 0-1 0 0 2 6 0 3-2-2 0-2 2 4 0 4-2 0 0 0-2-1-1-3 0 1-1-1 2 1 0-4 3 1 0-2-2-2 1-1 0-1 0-2-1-1 0-4-2 1 0-1 0 1-1 2-2 0 3 2-1 2"/><path class="p2" d="M1474 919l-1-1 3 3 1 0-1-4 0 4-1-2 1 1 0-3-1 2 2-1-1-2 0-2-2 1-24 1 24 4 1-1 0 0 2-2 0 2-1 2-2-4 0-1-29-4 29 1 1 4 0 1 1-1-4-31-2-3-1 13 3 7 1-9 3-9 1 13 2-2-3 4 4 11 3-13 1 3 3 7-5-4 0 12 0 8 2 1-28-4 27-1 2-8 4 0 8-1-3 1 1 5-7 7-8 1 0-5-6-12 1 2-3 7 11 22-7-13 1-1 0-3 2 0 0-1 1 1-1-1-1-3-1 0 1 0 0 0-1-4 2-2 0 2-2 2-1 1 1-1 0 2-16 3 19 0-1 4 0-2-1-1-1 1 0-4-1 1 1-3-3 0 4 4-10-4 2 6 3-4 8 0-23-5 27-6 2-9-4 7-15 12-2 5 7 5-2 5-3-11 1-8 4 5-1 8 5 1 1 11-2-10 1-5"/><path class="p6" d="M1488 867l-1 2 3 8 0-1-2-3 1 0 1 3-1-1-1 3 0-3-1-16-3-4 1-2 4 5-3-6-5 4 0 7 6-6-1 13 0-7-1 8 1 3 0 0-2 1 1-12 3 8-1 24 1-18 0-4-3-11"/><path class="p1" d="M1477 910l-1 8 2-9 2-7 0-3-2 40 0 1 0 1-1-2-3 3 0 1-1 0-1 1 1 0 1-1-1 0 1 1 1 2-1 0 0 0 0-5 1-2"/><path class="p7" d="M1490 900h0"/><path class="p9" d="M1510 903l22 1 0 1-24 2 0 1-2-1 0-7-1 0 2 21-1 5 25 3-25 1-2-3 1-1 2 9 9-5-7 3-1-1-1-4 0-1 0-2 20 4-28 31 2-10 6 2 5 0-3-8-2-4 0 5 7 4 6-2 12-10 1 4-9 1 5-13 2-11-9 31 1-8 2-12-5 6-2 3-6-8 0-28"/><path class="p8" d="M1498 899l1-6-1-2 2-6 1 2-1 7 0 6-1 2-2 0 1 1-2 3 0 3-1-3 0-5 1 2 2 8 0-5 0 3 0 2 1-6-3 0 0 1 0-2-3 9 0-18 2-14 3-1-1 22 3-1 0-11 2-5-8-18 2 3 8 9 1 3 2 7-5 1-2-1-2 28 2-22-1 1-1 0 1-3 3 1-2 4 1 1-1 3-3 2 0 1 0-4-1-1 0 5 1 2-1 3-1 1 1 3 3-5 0-3 1-4-1-4-2-6 1 1 0 0-1 0 0-4-3 3 2 4-1-1 0 7 0 2"/><path class="p3" d="M1472 906l3 12-1-2 2 1 1-4 0 2-2-1 1 1-1 5 0-1-10-23 1-14 2-2-1-3-4 5-1 7 5-6 5 0-3-7-3 7-5-1 20 41-1 6-2 2-1 3 7-3-5 1 0 3-4-3 3-8 3-10-7 9 9-5 6-5-3-3 3 4-2-1-4-10-3 7 3 5 1-5-3 0 3 4-5 5-2-1 2-2 0 1 0-1-2 0 1-3 0 0"/><path class="p4" d="M1477 898l3 2 3 6-1 0-2-1 2-2 1 0 2 2-1 1-2-1-1 2-1-4-3-7 0 9 3-3 4 8 1-8"/><path class="p9" d="M1510 898l-2 30 1-1-1-6-3-10 0 6 1 2 0-1 19 8-7 3-11-4 2 5 0-15 12 10-8-9"/><path class="p2" d="M1475 923l1-1-1-1 0 2-2 1 2-1 0 1 1-4-2 0 1-1-1 0 1-3 2 0 1-1 0 3-1-2 0 1-1 4 0-1 1 1-1 1 1 0-31 1 29-1-2 1 1-1 2 1 0-2 1 3-2-1 0-2 0 1 0-5-1-1-1 2 1 2 1 0 1-3-1 1-1 2-1-2 0 2 1 5 0-2 2 1-2 2 1-9 0 0 0-1-2 3 3 5 1-2-1-1 1 0 0-2 3 6-1-2-1 2 0 2 1 1-1 0-1-3 1 1 0 0-1 0 0 0 0-3 1-2-1 0 0 2-1-1 1 0 0 0 2 0 1-1 2-1-1 0-2-2 1 1-2-3 2-4-1 3-28 1 27 1 2 4 0-1-1 1-1 2"/><path class="p7" d="M1493 918l9-14-3-2-2-3-8-5-1 7-2-12-1 13-1-10-2-10-3-1-2-6 4-13 7 14 6 8 1 2-3-4-4 11-4 5 4 16 3-10-3-14-1 2 1 3"/><path class="p5" d="M1486 895l-1 3 0-2 0-3 1 7 0-2-1 3 1 2-1-3 2 1 0-2 13 6"/><path class="p8" d="M1492 884l3 3 1-2 1 2-1-4 0 0-1-5-3 23 1 2 1 1 0 0-2-5-1 4 1 0 0-2 1 6 1 1 1-4 2-11-1 7-1 1 4 1-2 3 0 3-3-7 5-9-1 4 0-4 1 6 0-5 0-1 1 0-1-3-1 3-1-6 1-3 1 4-1-4 0 2"/><path class="p3" d="M1476 915l-2-3 0 0-1 2 1 1 0-1 0-3-1 0-2-1 2 0-1 1-3 4-1 1 1-4-3 1 8 4 0-2-1-1-1 2-1-2 1-2 3 3-2 4-2-1 3-1 0-2 1 1 0 2 1 1-1 0 4 2 0-1 0 1-1-2 0-4 0 0 0 0 0 0-1 1-5 6-2 2 1-8-2-1 4-7 4 7 6-1-4-7 2 3-6 7-2 1 1-6 6 7-3-6-2 9-5-8-5-1-4 9 4-6 2 3-2-7-3 6-2 5-3 3 0 6 2-3-1-9 0 8 6-16 3 5 3 1-6 0 3 3 6 4-5-3 6 9-6 2-1-6 3-2 3 0-2 9 1 7 0-13 3 8-6 11 2 6 0-1-2 5 2 1-2-3 8-14 3-10 0 2-1 1-4 8 1-34-1 0 0 0 0 1 2 1-2-2 0 0 1 3 1-2 0 0 2 1-1-1 1-1-2 2-3-4-1-3 0 3 1 3 3 2"/><path class="p6" d="M1487 868l1 1-1-1-1 3 0 4 3 43 0-39-1-1 1 3-1-3-1 2 0-2 1-4 1 2 0-2 0 0 2 11-1 5 0 0-1 2 0 4-1 1 2-1 0 5-1 0 0 3-1-6 0-3 2-4 1 24-3-22-5-12-4 7 2 4-2 1 5 6 3 0-1-5-2-3-4-1 0 0 5 10 5 5 1 9-1-13 3 1-2 4 2-8 2 2-7-13 1 0-1 3 1-1 2 4-1-3-2-1 0-4 0 2 0 2-1 3 1 2-1-2-2-4 1 7-1-3-1 0 0 1-1-7 0 3 0 1 0 6 1-6"/><path class="p1" d="M1474 940l0-1 1 0 1 2-1-3 0 1 0-4 1-1-1 3 1 1 0 0 1 3-1-1 1 2-1 0 1-4 0 4 0 3 0 2 0 3 0-2-1-2-1-3 1-1"/><path class="p3" d="M1476 911l-4-5 0 2 2-1 0-1 2-1 0 1-2 1 0 1 0 3 3 21 1-2-1-2 6-12-2 0 0 1 6 12-33-10 19 4-1-14-1 0 2 2 1 0 2 1-2 1 3 1 2 3-7 11 0 4 4-8-7-4-1-12 5 6 0-1-2-2-7-4 1 8-6 0-3 0-5 0 1-6 1 6-3-2 4 8-5-2-1 3-1 0 3-7-2 9 29 8 1-5"/><path class="p7" d="M1493 891l0 0 0 2 2-5-1 0-1 1 0 0 1-3-5 8 1-2 0 0 1-2 1-3 1-2 1 4 3-1 2 3"/><path class="p4" d="M1483 898l-1 10 3 0-3-3 3-2 0-6-2 9-1-12 3 12 1-2-2-12 2 6 1 1 4 0 0 7-1 9-2 1 3 8-12-16 1 0 0-3-2-2 0 0 0 2 4 16 0 2"/><path class="p8" d="M1499 887l0 1 0 1-2 0 1-4-1-2-1-2 1 6-1 20-1-4-1 6 1-2 1-4 1 4-1-1-2 2 1-1 1 7 1 29 3-11-3-15-2 15-2-50 0-10 3 22 3 15-2-42 4-15 0 14 1 9-8 29 2-22 2 3-1-7 1-9 1 16 0 33 6-2-2-4-1-9-4 4 1-9-2-2 5 14-1 8-5 0-3-13-3 19 6-16-1-16 2-4-2 12-3-1-3 21-1 6 1-5 4-10 3-10-1-1 2 3-1-3 0 0 1 0 0-1-1 2 9-6-8 10 0 8 0-20-5-4 7 3-5 16 5-3-6 6 2 1 0-7-6-4-3-4 32-6-6 22-1-21-2 0-8 1-2 3 0-4-1 6 0 5-1 5 1-3 0-11 0-1 2 8 0 5 2 6-1 7 0-3 2-1-3 0 1-2 0 0-2-3-3 1 1-4 0-2 0-1 0-2 0 8-3 0 4 2-1-4 2 2 1 0 1 0-1-2-1 2 0 0-1-9"/><path class="p6" d="M1490 875l1-1-2 0 0-2-2-2 2-1 0 0 1 1-1 5-1 2 0-2 0 0 8 40 0 16 0 5-7-58-1 4 1-1-1 4 1 0-1-2-2-1 1 0 0 2-1-3 2-1-1-3-1-1 1 0 0 0-2 0-1 1 0-1-1 2 1 1 3-23 0-3 2 15-3 8 0 2-1-2 3 2-1 7 2-3-1-4-14 12-1 2 1-5 29 46 0 8-5-5 0 0 2-6 5 2-2-12-19-31 1 1 6 9-1-5 1-5-2-1 1-4-1-3-1-6 0 5 0 3-2-3 0 11 0-4-2-17 3 8 2 2-3 2-1-10-1 6-8 2"/><path class="p5" d="M1484 897l2 0 0-7-2-1-1-5-1 0 2 0 0 2"/><path class="p2" d="M1477 925l1 0-1-2 0 2 1 2-1 1 0-5 0 0 4 8-1-2 1 0 0-1 2 2 0 1 0 2 1-3 0 0 0 2 0 2 0-1 2 0-2-3 0-5 0 0-6-2-1-1-5 2 7-4-1-1-1 2-25 1 24 0 1 2 0-4-1 2-1 0-3-5 0-2 20 12-3 2-5 3-5-1 0 5 2-11 1 5 1 12 2-12-1 0 1-8 1 12-1-4-3-4-2-4-7 2-8-5 3-1 3 4 0-10 0-4-1-13 3-9"/><path class="p1" d="M1476 935l0 1 0-3 0 1 0 1 0 1 1 3 0 1 0-1-2 0 1 2 2-1-4 2 0-1-4-5-3 3 0-2 5 7 3-5-1-3-1 2-4 3-1 1 2 0 1 4 1 7 2 4 1-10 2 2"/><path class="p9" d="M1531 921l1-3 1 5-31 34-4-2-3-1-2 2 32-33-27-12 34 37-10 9-7-17-3-13 2 10-1-12 3-9-1 12 3 4-2 7"/></g></g><clipPath id="kc26"><rect x="1561" y="843" width="127" height="127"/></clipPath><g transform="scale(.5)"><g clip-path="url(#kc26)"><path class="p7" d="M1631 871l27 15-2-2-2 0-2 3-3-2"/><path class="p3" d="M1651 918l-4 0-4-2-3 1-4-2-4 0-3 1-4 3-4-3-4 2-3-1-17-13 34 21-2 2-3-4-2 1-2-1-2 1-2 3-2-1-2-2-2 0-2-2-2 2-2-2-2-2-2-3-2-3-2 2-2 0-2 1-3 0-2-2 68 3-3 1-2 0-3-1-3 2-2-2-3 2-3-1-2-3-3 1-2 1-3 2-3 2-2-2-3 1-3 1-2 1-3 0-3 2-2-1 3-7-3 0-3 0-3-1-3 3-3 0 50-10-3 0-2 0-2 3-2 4-2-2-2-1-2 1-6 24-18-36-3 0-2 0-2 2-3 1-2 4-2-3 54 6-2-3-49 5-3-2-2-2 68-3-2 1-3 2-2-3-3 0-3 1-2 1-3 0-2-2"/><path class="p2" d="M1627 910l-2 2 33 32-3-4-45-19-4 1-4 1-3-2-4-2-4 4 67 2-2-1-2 0-65 14 68 6-2-10-2 15-2 2-2-7-2 1-2-11-2-3-2 0-2 4-2 6-2 11-2-6-41-20-3-3 68 2-2 1-2-3-2-3-2-3-2-1-32 4-2 0-2 2-2 3-3 1-2 0-2 0-2 1-2-3-2 2-2-1-2 1-3 1 67 4-4-2-5 0-5-1-4 1-5 2-5 2 26 1-3 3 5-25-2 13-3 2-2 8-3-1-2-13-3 1-2 2-2-7-3-3-2 14-3 9-2-12-2 0-3-4-2-4-3 5-2 10-3 1-2 3-2 2-3 0-2-6-3-10-2-2-3-1-2 0-2 0 67-4-2 0-2-1-2 6-3 1-2-3-2-7-3 1-2 7-2 3 12-15-6-10-6 7-5 2-6 0-6 3-6-1-5 5-6-4-6 0-6 0 66-4-2 3-2-6-2 0-2 3-8 9-2 0-2 4"/><path class="p9" d="M1609 924l-2-18-2 25-2 0"/><path class="p8" d="M1599 876l-3-4-3 17-2 3 8 2-3 3-3-24-2 17 67 5-2 20-2-16-2-4-3-1-2 1-2 5-2 8-3 4-2-3-2-2-2 0"/><path class="p6" d="M1601 874l-2-8-5 25-2 7 61 5-3 4-3 2-3-3-3 8-3-17-3 8-2-4-3 6-3 10-3-1-3-11-3-14-3-6-3 13 23 0-4-4-4-8-4 0-4-2-4-3-4-2-4 2-4 1-4 0-4-1-4 2 67-1-2 0-40-14-4-1-4 2-4-16-4 4-5 3-4-2 67 0-69 3 67-1-20 25-2 2-2-1-2-4-2-12-3 5-2 8-2 1-2-9-2 4-2 9-2-1-2-16"/><path class="p5" d="M1604 898l-3 14 18-10-4 14-5-22-4-5-5 9-5-6-4 14 66-2-11-17-2-3-2-3-2 2-3 2-2 4-2 5-2 0-3 1-2 0-2-4-2 1-2 4-3-6-2-1-2 1-2 12-3-14-2 4-2 1-2 3-2 0-3 0-2 3-2-1-2-2-3-3 67 21-4-18-4 2-4-2-4-2-4-2-4-2-4-2-4-3-4 4 15-29-2 2-2 4-3 9-2-2-2-12-2-13-3 8-2-7-2 8-3 3-2 10-2-7"/><path class="p1" d="M1658 936l-2 1-3 2-2-3-3-1-3-3-2 2-3 1-2-3-3 0-3-3-2 2-8-14-3-7-2 2-3 5-2 2-3 10-3 5-2 1-3-13 50 20-2-1-2 5-3 1-2-3-3 1-2-1-2 0-3 3-2 0-3-2-2-3-2-3-3 1-2 3-2 0-3-1-2-2-3 0-2 0-2-1 24 0-3-1-2-2-2 0-2 0-2 0 30 16-4-6-4 16 9-43-47 13-2 1-2 4"/><path class="p1" d="M1610 910l-4 8-4-9-3-7-4-3 15 40-4 1-4 1-4-2 10 3-3 1-2 0-3 1-2 0-2-1-3 0-2 1 67 2-3 0-3 0-3-5-4-2"/><path class="p7" d="M1648 900h0"/><path class="p8" d="M1604 899l-3-6-2-2-3-6-3 2-2 7 67 6-3 2-4 0-4 1 10 3-3 3-2-3-3-5-3 2-3 8-3-5-2 3-3 2-3-6-3 0-2 1-3-2-18 9-2-18-2-14-2-1-2 22-2-1-2-11-3-5-2-18 68 3-2 9-2 3-2 7-45 1-2-1-2 28-5-22-5 1 66 0-2-3-2 1-3 4-2 1-3 3-2 2-3 1-2-4-2-1-3 5-2 2-3 3-2 1-2 3-3-5-2-3-3-4-2-4-3-6-2 1-2 0-3 0-2-4-3 3-2 4-3-1-2 7-2 2"/><path class="p4" d="M1633 907l-2 3-2 4-3-2-2-3-2-4-2 3-2-1-2 2-2 1-2-4-2 0-2-2 11 2-3 1-3-6-2-3-3 1-3-1-2 0-3 6-3 3-2-2-3-2-3 4 68 4-3 0-2 0-3-1-3-3-2 1-3-1-3 1-3-4-2 1-3-2-3-2-2-1-3-1-3-2-3-1-2-4-3 1-3-1-2 1-3 2-3 0-2 2-3 2"/><path class="p6" d="M1651 867l-4 2 2 8-2-1-2-3-2 0-2 3-2-1-2 3-2-3 23-16-2-4-3-2-3 5-2-6-3 4-3 7-2-6-3 13-2-7-43 8-3 3 67 0-4 1-58-12-5 8 68 24-2-18-3-4-2-11"/><path class="p5" d="M1627 879l-3-2-3 2 26-12-2 0-3 0-2-3-3 4-2 9-2 10-3 30-2-30-3 1-2-2-3 4-2 13-3-5-2-5-3-5-7 6-4-9-3 1-3-6-4-10 68 7-2 1-2 13-3 2-2 4-2-1"/><path class="p2" d="M1632 919l-2-1 13 3-4 0-4-4-3 4-4-2-4 1-4-3-4 2-4-1-3-2-4-2-4 1-4 1-4 4-4-1 68 0-2-2-2 2-2 2-2-4-2-1-2-4-2 1-2 4-2 1-3-1-45-31 67-3-2 13-3 7-2-9-2-9-3 13-2-2-3 4-2 11-3-13-2 3-3 7-2-4-3 12-2 8-3 1-2-4-2-1-3-8-2 0-3-1-2 1-3 5-2 7-3 1-2-5-3-12-2 2-3 7 48 22 21-13-2-1-2-3-3 0-2-1-2 1-3-1-2-3-2 0-3 0-2 0-2-4-3-2-2 2-2 2-3 1-2-1-2 2-3 3-2 0-2 4-3-2-2-1-2 1-3-4-2 1-2-3 34 0-3 4 15-4-4 6-5-4-4 0-4-5-4-6-4-9-5 7 28 12-3 5-4 5-3 5-3-11-3-8-4 5-3 8-3 1-4 11-3-10-3-5"/><path class="p3" d="M1635 906l-8 12-2-2-3 1-3-4-2 2-3-1-2 1-3 5-3-1 52-23-3-14-12-2-3-3-4 5-4 7-3-6-4 0-4-7-4 7-3-1 7 41-3 6-2 2-3 3-3-3-3 1-2 3-3-3-3-8-3-10-2 9-3-5 67-5-2-3-2 4-2-1-2-10-2 7-2 5-2-5-2 0-2 4 0 5-5-1-6-2-5 1-5-1-6 0-5-3-5 0"/><path class="p9" d="M1634 903l-2 1-2 1-2 2-2 1-2-1-2-7-2 0 15 21-2 5-2 3-2 1-2-3-2-1-2 9-2-5-2 3-2-1-3-4-2-1-2-2-2 4-8 31-2-10-2 2-2 0-3-8-2-4 67 5-6 4-5-2-2-10-2 4-2 1-2-13-3-11-2 31-2-8-3-12-2 6-2 3-3-8-2-28"/><path class="p7" d="M1636 918l-4-14-5-2-4-3-5-5-4 7-5-12-4 13-4-10-5-10-4-1 66-6-3-13-2 14-3 8-3 2-3-4-3 11-3 5-3 16-3-10 11-14-2 2-2 3"/><path class="p3" d="M1614 915l-3-3-2 0-2 2-3 1-2-1-2-3-3 0-2-1-2 0-2 1 67 4-2 1-3-4-2 1-20 4-5-2-4-1-5 2-5-2-4-2 42 3-21 4-3-1-3-1-2-2-3 1-3 2-3 1-2 0-19 2 67-1-2 1-2-2-2-4-2 0-2 0-2 0-2 1 1 6-4 2-4-8-4-1-5-7-4 7-4-1-5-7-4 3-4 7-5 1-4-6-4 7-5-6 68 9-4-8-4-1-3 9-4-6-4 3-3-7-4 6-3 5-4 3-4 6-3-3-4-9-4 8-3-16-4 5-4 1-3 0-4 3 67 4-3-3-3 9-3 2-3-6-3-2-3 0-4 9 22 7-3-13-4 8-4 11-4 6-4-1-4 5-3 1-4-3-4-14-4-10-4 2-4 1-3 8-9-34-2 0-2 0-2 1-2 1-3-2 68 0-2 3-3-2-2 0-2 1-3-1-2-1-2 2-3-4-2-3-3 3-2 3-2 2"/><path class="p4" d="M1648 898l-2 2-39 6-3 0-2-1-3-2-3 0-3 2-2 1 67-1-3 2-4-4-47-7-2 9-3-3-2 8-3-8"/><path class="p9" d="M1616 898l4 30-3-1-3-6-3-10-3 6-2 2-3-1-3 8-3 3-3-4-3 5 65-15-3 10-2-9"/><path class="p8" d="M1648 884l-2 3-3-2-2 2-3-4-2 0-3-5-32 23-3 2-2 1-3 0-2-5 67 4-4 0-5-2-4 6-5 1-5-4 22-11-2 7-2 1-24 1-3 3-3 3-20-7 27-9-2 4-3-4-2 6-2-5-2-1-2 0-2-3-2 3-2-6-2-3-3 4-2-4-2 2"/><path class="p1" d="M1633 940l-2-1-2 0-2 2-3-3-2 1-2-4-2-1-2 3-2 1-2 0-2 3-3-1-2 2-2 0-2-4-2 4-2 3-2 2-2 3-3-2 68-2-4-3-4-1"/><path class="p2" d="M1648 923l-4-1-4-1-3 2-4 1-4-1-3 1-4-4-4 0-3-1-4 0-3-3-4 0-4-1-3 3-4-2-4 1 68 4-2-1-2 1-2 1-2 0-2 1-2-1-9 1-2-1-2 1-2-2-2 3-2-1-2-2-2 1-2-5-2-1-2 2-3 2-2 0-2-3-2 1-2 2-2-2-2 2-2 5-2-2-2 1-2 2 48-9-2 0-2-1-2 3-35 5-3-2-3-1-3 0 67-2-9 6-3-2-2 2-3 2-2 1-3 0-2-3-3 1-2 0-3 0-2 0-3-3-2-2-2 0-3 2-2-1-3 0-2 0-15 0-3-1 68-1-2 0-2-2-2 1-2-3-2-4-2 3-3 1-2 1-2 4-2-1-2 1-2 2"/><path class="p5" d="M1643 895l-2 3-2-2-2-3-3 7-2-2-2 3-3 2-2-3 20 1-4-2-46 6"/><path class="p6" d="M1631 868l-3 1-2-1-3 3-2 4-3 43-2-39-3-1-2 3-3-3-2 2-3-2 0-4-4 2-5-2-5 0 34 11 35 5-4 0-5 2 9 4-2 1-3-1-3 5-2 0-3 3-3-6-3-3-2-4-3 24-3-22-41-12 68 7-3 4-4 1-4 6-4 0-3-5-4-3-4-1-3 0-4 10-4 5-4 9-3-13-4 1-4 4-4-8-3 2 6-13-4 0-4 3-4-1-4 4 68-3-3-1-3-4-3 2-3 2-3 3-3 2-3-2-3-4-3 7-3-3-3 0-3 1-3-7-3 3-3 1-3 6-3-6"/><path class="p3" d="M1626 911l-2-5-2 2-3-1-2-1-3-1-2 1-2 1-3 1-2 3 50 21-3-2-3-2-51-12-3 0-3 1 66 12-4-10-6 4 9-14-2 0-3 2-2 0-3 1-2 1-3 1-2 3-27 11-3 4-2-8-3-4-2-12-3 6-2-1-2-2-3-4-2 8 67 0-4 0-5 0-4-6-5 6-5-2-4 8-5-2-4 3-5 0-5-7-4 9-3 8-3-5"/><path class="p8" d="M1598 887l-3 1-2 1-2 0 67-4-3-2-2-2-3 6-29 20-4-4-5 6-5-2-5-4-5 4-5-1 66 2-2-1-2 7-21 29-3-11-2-15-2 15-34-50-3-10 67 22-6 15-5-42-6-15-5 14-6 9-5 29-6-22-6 3-5-7-6-9-5 16-6 33 68-2-4-4-3-9-3 4-3-9-4-2-3 14-3 8-4 0-3-13-3 19-3-16-4-16-3-4-3 12-4-1-3 21-3 6-3-5-4-10 64-10-3-1-3 3-4-3-3 0-4 0-3-1-4 2-10-6-4 10-3 8-3-20-4-4-3 3-4 16-3-3-4 6-3 1-4-7 0-4 68-4-25-6-3 22-3-21-2 0 34 1-5 3-6-4-6 6-6 5-5 5-6-3-9-11-3-1-2 8-2 5-2 6-3 7-2-3-2-1-3 0-2-2-2 0-3-3 67 1-5-4-4-2-5-1-5-2-5 8-5 0-4 2-5-4-5 2-5 0-4 0-5-2-5 2-5 0 67-9"/><path class="p2" d="M1616 925l-2 0-2-2-3 2-2 2-2 1-3-5-2 0 46 8-3-2-3 0-3-1-3 2-3 1-3 2-3-3-3 0-3 2-3 2-3-1-3 0-3-3-3-5-3 0 51-2-2-1-59 2 56-4-3-1-3 2-3 1-4 0-3 2-3-4-3 2-4 0-28-5-4-2 48 12-2 2-2 3-3-1-2 5-3-11-2 5-3 12-2-12-3 0 12-8-3 12-3-4-3-4-2-4-3 2 6-5-5-1-5 4-5-10-5-4-5-13-5-9"/><path class="p1" d="M1644 935l-2 1-2-3-3 1-2 1-2 1-3 3-2 1-2-1-3 0-2 2-2-1 12 2-4-1-28-5-3 3-2-2-3 7 67-5-2-3-2 2-2 3-3 1-2 0-2 4-3 7-2 4-2-10-3 2"/><path class="p7" d="M1624 891l-2 0-2 2-3-5-2 0-2 1-2 0-2-3 46 8-3-2-3 0-2-2-3-3-2-2-3 4-2-1-3 3"/><path class="p9" d="M1650 921l-4-3-4 5-30 34-3-2-4-1-3 2-3-33-3-12 22 37-6 9-5-17-6-13-6 10-6-12 68-9-3 12-2 4-3 7"/><path class="p5" d="M1592 897l66 0-5-7-4-1-5-5-5 0-5 0-5 2"/><path class="p4" d="M1647 898l-3 10-3 0-3-3-3-2-3-6-3 9-3-12-3 12-3-2-3-12-3 6-3 1-3 0-2 7-3 9-3 1-3 8 48-16-2 0-2-3-2-2-2 0-2 2-17 16-3 2"/><path class="p6" d="M1602 875l-2-1-2 0-3-2-2-2-2-1 67 0-2 1-2 5-3 2-2-2-2 0-53 40-3 16 67 5-20-58-4 4-4-1-4 4-4 0-4-2-4-1-4 0-4 2-4-3-4-1-5-3-4-1 67 0-5 0-5 0-5 1-5-1-5 2-5 1-19-23-3-3-2 15-2 8-2 2-2-2-2 2 63 7-3-3-4-4-47 12-4 2-5-5 52 46-3 8-3-5-2 0-3-6-3 2-3-12-19-31-3 1 26 9-2-5-3-5-2-1-2-4-2-3-3-6-2 5 33 3-6-3-6 11-5-4-6-17-6 8-6 2-5 2-6-10-6 6 26 2"/></g></g><clipPath id="kc30"><rect x="764" y="977" width="127" height="127"/></clipPath><g transform="scale(.5)"><g clip-path="url(#kc30)"><path class="p1" d="M844 1008l1-3 0 2 0 0 0 1 0-1 0 0 0 2 1 3 0 0 0 1 0-3-13 15 0 3 0 7 0-11 0-1 0 2 0-2 1-1 0-6-26-13 0 3 0 1 0 0-1 0 0-2 0-2 0 1 0 2 0 2 0 1-1-2 0 3 0-4 0 1 0-1 0 3 0-5-1-1 0 0-3 1 16 4 0 0 0-1 1-2 0-1 0-3-7 7 1-13 0 5-19 22 14-6 0 1 0-1"/><path class="p2" d="M820 1024l0-2 24-13 0 10 17-6 0 2 0 3 0-2 0-4 0 0-1-1 0 0 0 4-52-6 1-3 0 7 0 0 0 1 0-15 0 2 0-13 1 0 0-5 0 10 0 5 0 11 0-8 22 5-1 5 0 1 0-3 0-1 0 3 0 0-39 75 59-82 0 5 0 0-1-3 0-2 0 0 0-3 0 0 0 3 0 0-1 1 0 1 0 0 0-2 0-2 0 2-1-1 0-1 0-2 0 2 12 32-1 2-18 4 0-2 0 16 0 0-1-7 0-7 0 2 0 2 0-5 0 5 0-4-1 7 0 2 0-13 0-16 0-4 0 2-1-2 0 0 0 19-3-12 0 2 0 1 0 5-1 15 0-4 0-7 0-10 0-11 0-2 0 6-1-1 0-14 0-13 0-5 0 12 0 6-1 2-14 10 0-4 0-5 0 16 0 1 0-1 1 3 0-3 0-5 0 3 0 1 0-16 1 11 0 11 0 6 0 11 9 4 1 2 0 4"/><path class="p5" d="M845 1022l0 5-3-27 0 24 0-16 0 3 0 3 0-2 1 5 0 6-12-4 0 3 0 1 0 0 0 0 1 1 0 2 0 0 0-1 0 0 0-3 1-1 0 3 0-2 0-3 0-1 0 7 0-4 1 0 0 0 18-2 0 1 0 1 0 0 0 2-1-2 0-1 0-3 0 4 0-1 0 0 0 3-1 3 0 3 0 0 0-3 0 4-52-6 0-4-1 7 0 17 0 0 0 1 0 0 0-1-1-5 0-3 0 13 0-3 0-4"/><path class="p7" d="M859 1026l0-2 1 3 0-2 0 0 0 1"/><path class="p6" d="M862 1026l0-1-28-9 0 7 13-15 0 8 0-2 0-6 0 4 0 4 0-8 1 18 0-15 0-3 0-2 0-2 0-12 0 4 1 9 4 16 0-1 0 0 0 2 0-4 0 1 0 2 1 0 0 0 0-2 0-1 0 2 0 4 0 2 17 12 0 7 0-2-1 1 0-1 0 1 0 8 0-2-14-13 0 1-22 4 1-5 0 2 0-2 0 1 0-2 0-1 0 2 1-10 0 4 0-5 0 1 0-8"/><path class="p3" d="M841 1014l0 0 0 0 0-7 0 3 0-4-1 5 0-5 0 5 0 5 0 3 24-10-55 18 0 3 0 3 1 6 0 3 0-10 0 0 0-1 0-2 0 0 1 2 0-8 0 4 0 1 0 3 0-6 1-3 0 1 0-4 0-1 16-3 0 8-1 2 0-2 0 6 0-1 0 1 0 3-1 2 0 5 0-2 0-3 0-1 0-3 0 1-1-1 0 0 0-4 0-5 0-3 6-2 7-8 0 2 0 4 0 4 0 0 0-3-16 13 0-4 0-1 0-4 1 3 0 7 0 2 0-2 17-35 16 29 0 3 0-4 0 5 0 1 0-3-1-3 6 30 0-3-30-19 0-6 0 2 0 0 0-6 0-1 0 2-1-2 0 1 0-4 0-2 0 1"/><path class="p8" d="M865 1028l0 4 0-1 0-6-60 10 0-3 0-6 0 8 0 1-1-11 51 5 0 3 0-1 0-3 1 0 0 2 0-1 0 0 0-3 0-1"/><path class="p9" d="M857 1032l0 1 0 2 0 4"/><path class="p1" d="M808 1008l0-6 0-5 0-7 0 11-3 4 0 0 0-1 0 1 34 5 0 1 1 2 0 0 0-1 0-1 0-1 0 0 0 0 1 0 0-2 0 2 0 0"/><path class="p6" d="M818 1019l0 1-1 5-1-1 0-2 0 0 0 0 0-1 0 1 0 3 35-33 0 8 0 1 0-5-1 9 0-6 0-10 0-4 0 4 0-5 13 40 0-2 0-1 0 0-33 14 0-3 0-8 0-3 0 9 1-3"/><path class="p5" d="M841 1020l0 2-1 1 19 10 0-7 0-8 0 12 0 8 0 1 0-5 1-8 0-3 0-9 0-2 0-6 0 21 1-13 0-11 0 1-18 23 0 2 0-2-1 0 0 1 0-2 0 13 0-3 0-11-1 0 0 2"/><path class="p2" d="M834 1014l0-3 15-2 0 3 0-4 0-1 1 1 0 8 0 1 0 5 0-4 0 0 1-4 0 1-62 49 62-51 0 4 0-1 0 0 1-2 0 1 0-2-23 1-38 74 38-76 0 1-1 0 0 3 0 8 0 6 0-16 0 4-1-13 0-5 0 0 0 5 0-5 0 6-1 16 0 11 0-13 0 4 0-3 0-10 0 6-32 72 31-80 0-6 21 3 0 1 0-1 0-4-1 13 0-4 0-6 0 7 0-9 0-4-27 34 11-6 0-2 0-1 0 0 1 1 0 2 0-3 0 0 0 1 0-1 0 1 1 0 0 1 0-3 0-3 0-2 0-5 1 1-41 48 41-43-9-2 0 1 0 0 1 2 0 0 0-6 0-2 7-11 0-2 28 11 0-6 0 9 0-1-69 67 68-66 0-11 0 5-8-21 0-3 0 2 0 5 0 7 0 9 0-4 1-13 0 7 0 11 0 5 0-4"/><path class="p3" d="M830 1013l9 0 0-8 0-8 0 4 0 6 0 0-1-2 0 2 0-2 21 10 0 8-21-4 0 14 0-17 0-29 0-3 0-2 1 4 0 13 0 9-6 19 0 0 0-13 0 8 0 19-1-21 0-7 0 15 0 32 0-33 0 9 0-2-1 40 0-38 0 14 0-5 0 13 0 24-1-45 0 9 24 16 0-20-7-25 0-1 0 8 0 65 0-65 1-3 0-3 0-1"/><path class="p8" d="M829 1025l0-1-1 3 0 3 0-1 0 1 0 4 0-5 0-2-1 3 8-3 1 0 0 1 0-3 0 2 0 2 0 1 1 1 0 1 0 1 0 1 0-4 0 0 1 14 1 4 0 5 0 4 0 1 0-3 0-4 1-5 0-6 0-3 0-1 0 1 0 0 23-8 0-5 0-8-18 10 0-2 0 1 1-2 0 2 0 3 0 1 0 0 0-1 1 0 0 0 0 1 0 1 0 0 0-2 0 1 1 1 0 3 0 0 0 1-34 0 0-4 0 3-1 0 0-3 0 0 0 4 0 1 0 0 0 2-1 0"/><path class="p7" d="M808 1018h0"/><path class="p4" d="M839 1037l0 4-1-4 0-9 0 0 0-5 0 32 0-28-1 4 0-3 0 0 0-2 0 10-13-1 0 8-1 3 0 6 0-3 0 5 0 8 0 10 0-8-1-7 0-9 0 0 0 1 0-2 0-1 0-6-1 1 0 0 0 4 0-1-5 5 0 0 0 1 1-1 0-8 0-3 0-1 0 5 0 5 0-9 1 5 0 4 0-2 0 0 0 9 0-1"/><path class="p9" d="M864 1034l0-1-1 0 0 0 0-2 0 0 0 1 0 0-3-1 0 0 1 1 0-1 0 0 0 0 0 1 0 1 0 0 1 0 0-1 0-1 0 0 0 1-57-11 0 4-1 0 0 2 0-2 0 0 0 2 0 0 0 1 54 2 0-1 0 3 0 3-1-2 0 2 0-3 0 0 0-2 0 0 0 2-1-1"/><path class="p8" d="M856 1027l1 0 0-2 0 1 0 1 0 1 0-2-52 1 0 0 0 2 0-2 0-1-1-2 0 0 0 0 0 1 0 2 0 2 29 6 0-5 0 1 6-6 0 0 0 0 1 7-6-2 0 6 0 0 0-1 0-5 1 4 0 0 0-1 0 0 0 0 0-1 0 1 1 0 0-1"/><path class="p5" d="M798 1022l0-1 0-1 0-1 0 1 0 0-1 3 0-1 0 2 31 2 0-1-9-3"/><path class="p1" d="M833 1003l-1 0 0 0 0-2 0-2 0 2 0 2 0 1-1 1 0 1 0 1 0 0 0-4 0 1-1-4 0 3 0 1 0 1 0 0 0-2-26 2 0-1 0 0 0 0"/><path class="p3" d="M861 1023l1-4 0 5 0-5 0-2 0 3 0 3 1-3 0 4 0-9 0-2 0-1 0-3 0 0 1 2-11 15 0 4 0 0 0-7-1 1 0-1-2-6-21-10 0-1 1 2 0 0 0 7 0 0 0 3 0 46 21-47 0 4 0 1 0-1 0 0-1 0 0-2 0-2 0 3-4 71 0-99 0 15 0-19 0-5 0-2 1 11 0-6 0 0 0 4 0 90 0-90 0-8 1 12 0 6 0 3 0-1 0 0 0-2 0 7-13-10 0 16 0-8 0-5-1-6 0 5 0-6 0 3 0-2 0 15 0-11-1-7 0-3 0-6 0 6 0 6 0 3 0-8-1 7 0-6 22 16 0-3 0-9 0-2 0-9 1 0 0 87 0-78 0 5 0-6 0 4 0 79 1-57 0 7 0-10-24 4 0 68 0-56 0-4 0-4 0 0 0 1 1 6 0-1 0 2 0 2 0 2 0 3 0-6 1-6 0 5 0 0 0 3 0 6"/><path class="p2" d="M841 1014l0 2 0 4 0-2-1-2 0-2 0-2 0 3 0-1 0-1 0-1-1-7 0 0 0 3 0 4 0-3 0 2 0 4-1 1 0 0-36 2 0 2-4 49 4-46 46-4 0 2 0-1 1 4 0 1 0-1 0-1 0-4 0 3 1 3 0-1 0-3 0 1 0-1 0 1 0 0 1-2 0-2 0-4 0-3-11-1 0-3 1 6 0-3 0 1 0-5-25 10 0-2 0 0 0 1 0-3-6-4 1-2 0-1 0 1 0 3 0 3 0 2 0-3 1 4 0 1 0 5 0-2 0 2 0 0 0-4 1 0 0-4 0 1 7 5 0-4 0-1 0 0 0-1-1 3 0-1 0 4 0 3-27 39 27-42-1 0 0 1 0 2 0 3"/><path class="p6" d="M845 1022l0-1 1-1 0 1 0 4 0-3 0 4 0 0 1 0 0-2 0 0 0-2 13 6 0 4 0 0-1-2-13-7 0 4-1 0 0 0-10 0 0 2 0 2 0 1 0 0 0 0 0-1 1 0 0-5 0-6 0 4 8-17 0 4 0 9 0 7-1-2 0-1 0-3 0 0 0-9 0 1-1 1 0-4 0-1 0 8 0-7 0-3 0 2-1 2 8 10 0-2 0 2 0 0 0 2 0-1 1-1 0 0 0 0 0 0 0 3 0 0 1-2 0 0 0 4 0 1 0 1 0 0 0-2 1-1-39 0 0 0 1 1"/><path class="p7" d="M853 1021l0 2 0 0 0 2 0 4 0 1 1-8 0 0 0 1 0-1 0 7 0-2 1-4 0-1 0-3 0 4 0-1 0 4 0-2 1-1-10-2 11 12-1-1 0 0"/><path class="p9" d="M856 1030l-25 4 0 0 0 1 0 0 0 0-1 1 0-1 0-1 0 0 0 0 0-1 31-4 0 1 0 1"/><path class="p4" d="M818 1042l0-1 30-6 1 1 0-6 0 1 0 4 0 0 0-6 1 0 0 0 0 7-31 40 0 9 0-14 0 10 1 0"/><path class="p2" d="M838 1010l0-1 0 4 0 0-1-1 0-4 0 2 0 0 10 0 0-1 0 0 1-4 0-2 0 1 0 6 0 2 0-2 0 2 1 5 0 1 0 0 0-1 0-3 0-3-23 0 0-1 21-1-7 13 0 2 0-2-43 51 43-48-1-2 0 0 0 2 0-3 9-2 0-2-28-11 0-13 0 3 0-7 0 12 0 1 0 2-1-8 0-8 0 0 10 44 0 4-1 8 0-3 0 7 0 12-1-55 0 9 0-6 0-13 0-6-1-2 0 7"/><path class="p3" d="M834 1041l-7-4 0 1 0-2 1 3 0-4 0 3 0-5 0-7 0 8 1-38 0-2 0 8-11 5 0 5 0-2 0-5-29 70 54-58-13 12 0-3 0-8 1 4 0-1 0 0 0 4 0-2-8-33 0-4 0 1-1 4 0 8 0 6 0 16 0-5 0-16 0-11-1 1 0-1 0 34 0 1 0 9 0-17 0 2-1 2 0 9 0 8 24 7 0-10-17 58 0-23"/><path class="p9" d="M825 1035l0 2 0-2-12 1 0-2 0 1-1 1 0 3 0-2 45-9 0 5 0-2 0-1-1-1 0 2 0 4 0 1 0-4 0 0"/><path class="p7" d="M801 1030l1 2 0-1 0 0 0 0 0-1 0-1 1 1 10-5 0 0 0 1 0 0 0-2 0 0-1 0 0-1 0-2"/><path class="p1" d="M834 1006l0-1 0 3 0 2-1 0 0 0 0 3 0-3 0 0 0-3-1 0 0-1 3 2 0-2-46 33 0-7 0-6 0-9-1-1 0 2 0-7 0 8 0-7 0-2 0-4-1 2 0 1 0-2 0-4"/><path class="p4" d="M830 1034l0-8 0 3 0-5 0-4 1 21 0 8 0-37 0-11 0 2 0-4 1-15 0 9 0-1 0-7 0-3 0 24 0 16 15 19 1-5 0 2 0 8 0-2 0 5-41 29 0-9"/><path class="p8" d="M811 1025l0 1 1 0 0-2 0 1 0-2 0 1 0 0 29 7 0-1 0-1 0 1 0 0 0-2 1 0 0 1 0-1 0 1 20 17 0 3 0 0-1 0-29-24 0-9 0 5 0 8 1-23 0 7 0-3 0 6 0 3 0-14 0 0 1 4 0-3 0 1 0-2 0 1 0 0 0 11 1-5 0 6 12-11 0-2 0 8 0 1 0-10 0 2 1 1 0 5 0-8 0 11 0-6 0-1 0-3 1 10 0 8-13 0-1 3 0-1 0 0 0-2 0 0 0 1 0 1-10-7 1 11 0 5 0 4 0-7 0-13 0 25 0 6 1 1 0-3 0 12 37-8 0-13-33-24 0 14 0-16 0 2 1 10 0 0 0-1 0 4 0 0 0 0 1-1 10 2 0 1 0 1 0 4-1 5 0 2 0-6 0 0 0-1 0 1 0 0-1 0 0-4 0 1 0-2 0 0 0-2-1 2 0-7 0 8-2-2 0 1 0 1 0 4 0 1-1-2 0 0 0 3"/><path class="p6" d="M837 1029l0-2 0-1 0-1 0 4 0-2 0-4 1-1 0-1 0-2 0 2 0 0-3-25-1 5 0-3-28 30 0-1 0 3 0 1 0 2 0-2 0-2-1-1 0-2 0 2 0 1 0 2 0-1-1 0 0-3 0-1 0-1 0-2 0 3 0 1 58 11 0-2 0-5 0-4 0 6 0-13 1 1-13 10-1 0 0-2 5-10 0 17 0 4-26-12 0-4-1 6 0 8 0-6 0-5 0 2 13 2 0 3 6-9 0 0 1 2 0 0 0 0 0 0 0 1 0-3-23 16 0 0 0 3 0-2-1-5 0-8 0 3 0-1 0-12 0 2-6 4"/><path class="p5" d="M833 1023l0-1 1 0 0-2 0-1 0 3 0 2 0-1"/></g></g><clipPath id="kc31"><rect x="897" y="977" width="127" height="127"/></clipPath><g transform="scale(.5)"><g clip-path="url(#kc31)"><path class="p1" d="M934 1008l-1-3 1 2-1 0 0 1 0-1 0 0 1 2 1 3-1 0 2 1-1-3 4 15-1 3 0 7-2-11 2-1 0 2 3-2 0-1 0-6-3-13 0 3 0 1-1 0-1 0 1-2 0-2 0 1 0 2 0 2-1 1-1-2 0 3-1-4 0 1 0-1 0 3 1-5-1-1 0 0 1 1-2 4 0 0 1-1-1-2 1-1 0-3 2 7 1-13-5 5 1 22 5-6-1 1 0-1"/><path class="p6" d="M923 1026l2-1 2-9 0 7-5-15-2 8-2-2 1-6 2 4 5 4 5-8 40 18-42-15-8-3 3-2-3-2-3-12 0 4 5 9 5 16 3-1-1 0 0 2 0-4-2 1-1 2 1 0 0 0 0-2 0-1 0 2-1 4 1 2-7 12-2 7 0-2 0 1-2-1 10 1-6 8 0-2 2-13 0 1 14 4-2-5-8 2 1-2-1 1-2-2-5-1 3 2 3-10 0 4-2-5 5 1-2-8"/><path class="p5" d="M932 1022l12 5-7-27 29 24-28-16 0 3 1 3-2-2-3 5 3 6-2-4 0 3 0 1-1 0-2 0 1 1 0 2-1 0 2-1-1 0 0-3 1-1-1 3 0-2-2-3 1-1 27 7-27-4-2 0 1 0 0-2 0 1 2 1 0 0 2 2-4-2 2-1 40-3-39 4-2-1 3 0-1 3 0 3 1 3-1 0 1-3 0 4-17-6 1-4-1 7 2 17-1 0 0 1 6 0 5-1-3-5 1-3 0 13 1-3 2-4"/><path class="p7" d="M931 1026l-5-2-1 3 0-2-1 0 0 1"/><path class="p9" d="M922 1032l0 1-1 2 1 4"/><path class="p2" d="M937 1024l-1-2 2-13-1 10-4-6-1 2 1 3 0-2 1-4 0 0 0-1 0 0 0 4 4-6 1-3-3 7-1 0 2 1-1-15 2 2 1-13 2 0-2-5 2 10-1 5-1 11 1-8-8 5 0 5 1 1 1-3-1-1-1 3 0 0 8 75-9-82 0 5 0 0 0-3-1-2 0 0 1-3 0 0 0 3 1 0 0 1 0 1 1 0 0-2 1-2-1 2 0-1-1-1 1-2-1 2 4 32 0 2-12 4 2-2 1 16 1 0 4-7 0-7 2 2 0 2 1-5 0 5 2-4-2 7 2 2-3-13-1-16 2-4 2 2-1-2-3 0-1 19 4-12 0 2-3 1 1 5-2 15 0-4-2-7-3-10-2-11 0-2 0 6 1-1 1-14 0-13 1-5-2 12-1 6 0 2 6 10-2-4-2-5 4 16 1 1-2-1 4 3-2-3 0-5 3 3 0 1-3-16-1 11-1 11 0 6 3 11 7 4 3 2 0 4"/><path class="p8" d="M933 1028l-1 4 2-1-2-6-7 10-2-3-2-6 1 8-2 1 0-11 2 5-1 3 2-1 0-3 1 0 0 2 0-1 1 0 1-3 0-1"/><path class="p3" d="M931 1014l1 0-1 0 1-7 0 3-1-4 1 5 0-5 1 5-1 5-1 3 2-10 0 18-1 3 1 3 0 6 0 3 0-10-1 0 1-1-1-2 0 0 2 2 0-8 0 4 0 1 0 3 0-6-1-3 0 1 0-4 0-1-1-3 0 8 0 2 0-2-1 6 0-1-1 1 0 3 0 2 1 5 0-2 0-3 2-1 0-3-1 1 0-1-1 0-1-4 1-5 0-3-1-2 2-8 0 2 0 4 0 4 0 0-1-3 1 13 0-4 0-1 1-4 0 3 0 7-1 2 0-2 5-35-3 29 0 3 0-4-1 5 0 1 0-3 0-3-1 30 1-3-1-19 1-6 0 2-1 0-1-6 1-1 0 2 1-2 0 1-1-4 0-2 0 1"/><path class="p1" d="M940 1008l-2-6 0-5 4-7-1 11-4 4 2 0 0-1 0 1-6 5 0 1 1 2-1 0 2-1 0-1 1-1 0 0-2 0 0 0 1-2 0 2 0 0"/><path class="p4" d="M938 1037l-2 4-2-4 0-9-1 0 1-5 0 32-1-28 1 4 1-3-2 0 2-2 1 10-3-1 0 8 0 3 0 6-1-3-1 5 0 8 2 10-1-8 1-7 0-9 1 0-2 1 0-2-1-1-1-6-2 1 1 0-1 4 1-1 2 5 2 0 0 1-1-1-1-8 3-3 0-1-1 5 2 5 1-9-2 5-1 4 0-2 1 0-1 9 1-1"/><path class="p2" d="M934 1014l0-3-1-2 0 3 0-4-1-1 1 1-1 8 0 1 0 5 0-4 0 0 1-4 0 1 7 49-7-51-1 4 0-1-1 0 0-2 1 1 0-2-1 1 13 74-11-76 0 1 0 0 0 3 10 8-1 6-1-16-1 4-1-13 5-5 3 0 2 5-1-5 0 6-3 16 0 11-1-13 0 4 0-3 2-10 0 6-8 72 9-80 0-6 1 3-2 1-3-1-2-4 1 13 0-4 3-6-3 7 0-9-2-4-5 34-3-6 0-2 1-1 0 0-1 1 1 2 0-3 0 0 0 1 0-1 0 1-1 0 1 1 1-3 0-3 0-2 1-5-1 1 4 48-6-43 0-2 0 1 0 0 2 2 0 0-1-6 0-2 1-11-1-2 1 11 1-6-3 9 3-1 6 67-5-66 1-11 0 5-5-21 1-3 0 2 2 5 2 7-3 9-1-4 1-13-4 7 0 11-1 5-2-4"/><path class="p5" d="M932 1020l0 2-3 1 26 10-3-7-1-8-7 12 3 8-2 1 1-5 47-8-55-3-1-9-6-2 7-6 15 21-20-13 1-11-11 1-5 23 6 2-3-2 7 0-4 1 0-2 0 13-2-3 8-11 0 0-3 2"/><path class="p3" d="M931 1013l1 0-2-8 1-8-1 4 1 6 1 0-1-2 0 2 0-2 1 10 0 8 3-4 1 14-1-17 3-29 0-3 1-2-4 4 0 13 2 9-4 19 0 0-1-13 3 8 0 19-3-21 3-7 2 15-5 32 1-33 0 9-1-2-1 40 1-38 1 14 4-5 0 13-1 24 0-45-1 9 1 16-1-20-2-25-1-1 1 8 0 65 0-65 0-3-1-3 1-1"/><path class="p8" d="M923 1025l0-1-1 3 0 3 1-1 1 1 1 4 0-5 0-2 0 3-1-3-1 0-1 1 1-3 0 2 1 2 0 1 0 1 0 1 0 1 0 1 0-4 0 0 4 14-2 4 1 5-4 4 1 1 0-3-1-4-2-5 1-6 2-3-1-1 3 1-3 0-1-8-3-5 0-8 5 10 1-2 0 1-1-2 0 2 0 3 1 1-1 0 1-1 1 0 0 0 0 1 0 1 0 0 0-2 1 1 0 1 0 3-2 0 1 1 0 0-1-4 0 3-1 0 0-3 0 0 0 4 1 1-2 0 0 2 1 0"/><path class="p7" d="M924 1018h0"/><path class="p9" d="M922 1034l0-1 0 0-1 0 0-2 0 0 0 1 0 0 2-1 0 0 0 1 1-1 0 0 0 0 0 1 0 1 0 0 0 0-1-1 0-1 0 0 0 1-2-11 2 4-1 0 1 2-1-2-1 0 0 2 0 0 0 1-1 2 1-1-1 3 1 3 0-2-2 2 1-3 0 0 2-2 1 0 1 2 1-1"/><path class="p6" d="M925 1019l-1 1 6 5 1-1 0-2 1 0-3 0-1-1 2 1 1 3-6-33-1 8 0 1 6-5 2 9 12-6 3-10-7-4-2 4-3-5-5 40 3-2 0-1-1 0 22 14-11-3 49-8-40-3-1 9-1-3"/><path class="p7" d="M922 1021l0 2 0 0 1 2 0 4 0 1 2-8-1 0-2 1 1-1 0 7-2-2-1-4-2-1 1-3 3 4-1-1-1 4 3-2-1-1-1-2 4 12-1-1 0 0"/><path class="p3" d="M933 1023l-2-4 0 5 1-5 0-2 0 3 0 3 1-3 0 4 0-9 0-2 0-1-1-3 1 0 0 2-1 15 0 4-1 0-1-7 0 1 0-1 2-6 1-10 0-1 1 2-1 0 0 7 0 0 0 3 1 46-3-47 1 4-1 1 1-1-1 0 0 0 0-2-1-2 1 3 0 71-2-99 1 15-1-19 2-5 2-2-1 11-3-6-1 0-1 4-1 90 1-90 0-8 0 12 0 6-1 3-2-1 4 0-1-2-2 7-1-10 4 16 0-8 0-5 3-6-1 5 2-6 1 3 0-2-3 15 3-11-1-7 0-3-1-6 0 6-1 6 0 3 0-8 2 7 3-6 0 16 1-3 4-9 0-2-1-9-2 0-1 87 1-78-2 5 1-6 2 4-2 79-1-57 0 7 0-10-2 4 1 68-1-56-1-4-1-4 0 0-1 1 0 6 1-1 1 2-1 2-1 2 1 3 0-6-2-6 1 5 0 0 0 3 1 6"/><path class="p2" d="M934 1014l-1 2 1 4 0-2 0-2 0-2 0-2 1 3 0-1-1-1-1-1 0-7 0 0 0 3 1 4-1-3-1 2 1 4 0 1 0 0 0 2 1 2 6 49-5-46-2-4 0 2 1-1 0 4 0 1-1-1-1-1 1-4-1 3 1 3 0-1 0-3 0 1 2-1 0 1 0 0-1-2 0-2 0-4 0-3 0-1 0-3-2 6 1-3 0 1 0-5 0 10 0-2-1 0 0 1 1-3-2-4 0-2 1-1 0 1-1 3 0 3 0 2-1-3-1 4 1 1 1 5-2-2 0 2 0 0 0-4 0 0 0-4 0 1 2 5 0-4 0-1 2 0 1-1 0 3-1-1-1 4 0 3 9 39-10-42 1 0 0 1 0 2 0 3"/><path class="p1" d="M935 1003l-1 0 0 0 0-2 0-2 0 2 0 2 0 1 0 1 0 1 0 1 0 0 0-4 0 1 1-4-2 3 1 1 0 1 0 0 1-2 0 2-1-1 0 0 0 0"/><path class="p4" d="M933 1042l-2-1 11-6-1 1-3-6 1 1-1 4 0 0-1-6 1 0 0 0-1 7-18 40-2 9 5-14-1 10-4 0"/><path class="p6" d="M929 1022l1-1 1-1 0 1 0 4 52-3-53 4-2 0 1 0-1-2 1 0 0-2-2 6-2 4 2 0-3-2 11-7-1 4-1 0-2 0-1 0 0 2 1 2 0 1-1 0 0 0 1-1 0 0-2-5 22-6-20 4-6-17 4 4-4 9-2 7-2-2 5-1 7-3 1 0-3-9-10 1-3 1 4-4-4-1 1 8 2-7-1-3 1 2 4 2 5 10-2-2-1 2 0 0 0 2 0-1-1-1 2 0-3 0-1 0 2 3 1 0 0-2-1 0 4 4 0 1 3 1 0 0 0-2 0-1 1 0 2 0-3 1"/><path class="p9" d="M925 1030l-4 4 0 0 1 1 1 0 0 0 0 1 0-1 1-1-1 0 1 0-1-1-2-4 1 1-1 1"/><path class="p5" d="M929 1022l2-1 0-1 1-1-1 1 1 0 2 3 2-1 1 2-3 2-2-1 1-3"/><path class="p8" d="M925 1027l0 0 0-2-1 1 1 1-1 1 0-2-1 1 0 0 0 2 0-2 1-1 0-2 0 0 0 0 0 1 0 2 0 2-1 6 0-5-1 1 1-6-1 0-1 0 3 7 21-2-22 6-2 0 0-1 0-5 0 4 0 0-1-1 1 0 0 0 1-1 0 1 1 0 1-1"/><path class="p8" d="M926 1025l-1 1 0 0 1-2 0 1-1-2 0 1 0 0-1 7 0-1 0-1 1 1-1 0 1-2-1 0-1 1 0-1 0 1 3 17 2 3-2 0 0 0-6-24-3-9 66 5-35 8-27-23 2 7 1-3 4 6 25 3-25-14-3 0 0 4 0-3-1 1-1-2-1 1-1 0-1 11 0-5 0 6 2-11 1-2-2 8 0 1 0-10-2 2 3 1 5 5 1-8-2 11 1-6-1-1-1-3-1 10-2 8-2 0 0 3 1-1 0 0 1-2 0 0 0 1 0 1 22-7-23 11 0 5-1 4-2-7 28-13-28 25 0 6-1 1 1-3 1 12 2-8 3-13 12-24 51 14-55-16-1 2-6 10-1 0-1-1-1 4 0 0-1 0 1-1 3 2 0 1-1 1 1 4 0 5 0 2-1-6 1 0 0-1 0 1 0 0-1 0 1-4 0 1 0-2 0 0 1-2 0 2 21-7-22 8-1-2 0 1 1 1 0 4-1 1-1-2 1 0 0 3"/><path class="p3" d="M931 1041l-1-4 0 1 1-2 0 3-1-4 0 3 0-5-1-7 1 8 0-38 0-2-1 8 3 5 0 5 0-2-2-5 9 70-7-58 4 12 0-3-1-8 0 4-1-1 0 0 1 4 0-2-7-33-1-4 3 1-1 4-2 8-1 6 0 16 0-5 2-16 1-11 2 1 5-1 3 34-1 1 1 9 0-17 0 2 2 2-2 9 0 8-2 7-4-10 5 58-1-23"/><path class="p4" d="M948 1034l3-8-1 3-2-5 4-4 5 21-1 8-7-37-5-11-4 2-2-4 4-15 5 9 4-1 1-7-2-3-7 24-5 16-1 19 0-5 1 2-1 8-1-2 0 5 0 29 10-9"/><path class="p5" d="M933 1023l1-1 1 0 0-2-1-1 0 3-2 2 0-1"/><path class="p7" d="M924 1030l0 2 1-1 0 0 0 0-1-1 0-1-1 1 3-5 0 0 0 1-1 0-1-2 1 0 0 0 0-1 2-2"/><path class="p9" d="M919 1035l-1 2 0-2 7 1 0-2 0 1 1 1 3 3-2-2-9-9 2 5-2-2 0-1 2-1 1 2-1 4 0 1-1-4 1 0"/><path class="p2" d="M932 1010l1-1 0 4 1 0 1-1-1-4 1 2 0 0-2 0 0-1-2 0 3-4 0-2-1 1 1 6-1 2 1-2 0 2-1 5 1 1 1 0-1-1-1-3 0-3 1 0 0-1-3-1 0 13 1 2 1-2 11 51-12-48 1-2-1 0 1 2 0-3 3-2 1-2 9-11 0-13-2 3 1-7-6 12-2 1 1 2-3-8 0-8-2 0-1 44-1 4 1 8 0-3 2 7 1 12 0-55-2 9 1-6 0-13 0-6-2-2-2 7"/><path class="p1" d="M938 1006l-1-1 0 3-1 2-1 0 1 0 0 3 0-3 0 0 0-3-2 0 1-1 0 2-1-2 5 33 0-7-2-6-5-9 1-1 1 2 3-7 0 8-3-7 2-2 0-4 1 2 3 1-2-2 0-4"/><path class="p6" d="M928 1029l-1-2 1-1 0-1-1 4 3-2 0-4 2-1-1-1 1-2 1 2 0 0-8-25-8 5 1-3 9 30-2-1 2 3 0 1 2 2 2-2-1-2-1-1-1-2-1 2 0 1 0 2 3-1-1 0 1-3-2-1-1-1 0-2 1 3 0 1-2 11-4-2-5-5 3-4 1 6-2-13 1 1 7 10-1 0-2-2 37-10-37 17-4 4 0-12 4-4 3 6-3 8-3-6-1-5 3 2 10 2-1 3-1-9-2 0 1 2-1 0 0 0-1 0 3 1 0-3 9 16 3 0-2 3 5-2-1-5 2-8-3 3 1-1 5-12-2 2-12 4"/></g></g><clipPath id="kc32"><rect x="1030" y="977" width="127" height="127"/></clipPath><g transform="scale(.5)"><g clip-path="url(#kc32)"><path class="p2" d="M1090 1024l-2-2-25-13 3 10 16-6-1 2-1 3 1-2 2-4-3 0-2-1 1 0 0 4-11-6-5-3 8 7-12 0-1 1 5-15-1 2 9-13 2 0 0-5-3 10-5 5-8 11 4-8 16 5 3 5-2 1-1-3 3-1 2 3 2 0 1 75-3-82 0 5-1 0-3-3 0-2-1 0 0-3 0 0 2 3-2 0 1 1-1 1 0 0-3-2 1-2 0 2 1-1-1-1-2-2-1 2-1 32-2 2 20 4-11-2-1 16-7 0 1-7 10-7 0 2-2 2 5-5 3 5-11-4-8 7 10 2 0-13 3-16 3-4-4 2-7-2-2 0-2 19-1-12-1 2 6 1 8 5 1 15 1-4 0-7 0-10 3-11 0-2 1 6-5-1-1-14 3-13 5-5 0 12-6 6-3 2 12 10 9-4-6-5-1 16-1 1-2-1 1 3-4-3 3-5 0 3 0 1 3-16-3 11 5 11 0 6-2 11-7 4 0 2-3 4"/><path class="p8" d="M1117 1028l3 4-13-1-2-6-2 10-3-3 19-6-13 8-4 1-16-11 13 5 3 3 1-1-1-3-4 0-6 2-3-1 2 0 1-3 1-1"/><path class="p1" d="M1069 1008l0-3-2 2 2 0 2 1 2-1-2 0-1 2 3 3 0 0 2 1-1-3 11 15 5 3-1 7-4-11-2-1-8 2-4-2 0-1 9-6-15-13 1 3-4 1-1 0 2 0-1-2 1-2 0 1-2 2 0 2 1 1 3-2 2 3-1-4-2 1 0-1 1 3 1-5 0-1 0 0 1 1 0 4 1 0 2-1-1-2 0-1 0-3-12 7 4-13-12 5 34 22-11-6 0 1-3-1"/><path class="p9" d="M1079 1032l14 1-19 2-1 4"/><path class="p6" d="M1119 1026l6-1-20-9-5 7-4-15-4 8-2-2 3-6-6 4 14 4-7-8 3 18-4-15-8-3 0-2 9-2 11-12 5 4-10 9 0 16 3-1 6 0 0 2 2-4 2 1 2 2-2 0 0 0 0-2 0-1-2 2 1 4 1 2 10 12 1 7-1-2 12 1-3-1-2 1 1 8 1-2-3-13 1 1-20 4-1-5 0 2 3-2 10 1-4-2-6-1-2 2 8-10-3 4-8-5 2 1 12-8"/><path class="p5" d="M1100 1022l-12 5 8-27-11 24 18-16 4 3-7 3 4-2-11 5 2 6 14-4 2 3 2 1-1 0-2 0-3 1-4 2 0 0-1-1 0 0 3-3 0-1-4 3 5-2 1-3-1-1-9 7 10-4-2 0-1 0-2-2-1 1 0 1-2 0 0 2 3-2 1-1-16-3 15 4-2-1 2 0 0 3 2 3 2 3 2 0 2-3-3 4 23-6-2-4-3 7-7 17 1 0 10 1 10 0-6-1 5-5-5-3-3 13-8-3 6-4"/><path class="p7" d="M1121 1026l-12-2 2 3 0-2-3 0 2 1"/><path class="p3" d="M1084 1014l0 0 2 0-2-7 2 3 0-4-1 5-2-5 2 5-2 5 1 3 11-10-17 18-2 3 3 3 0 6 1 3-1-10-2 0 0-1 2-2 0 0 1 2-1-8 1 4 2 1 2 3 3-6-2-3 0 1-1-4 1-1 1-3-3 8 0 2 0-2 1 6-2-1 2 1-2 3 1 2 3 5-2-2-1-3-1-1-1-3 1 1 0-1-1 0-2-4 0-5-1-3 1-2 5-8 1 2 0 4 1 4-3 0 0-3 8 13 0-4 0-1-2-4-4 3 2 7 1 2-1-2-19-35 29 29 0 3-1-4-1 5-1 1-3-3 3-3-6 30 3-3-4-19 2-6 1 2 2 0 0-6-2-1 2 2 1-2-1 1-1-4 0-2 1 1"/><path class="p5" d="M1114 1020l2 2-1 1 9 10 0-7 0-8 3 12-3 8-8 1-8-5-24-8 24-3-1-9 2-2-3-6-10 21 4-13 4-11 3 1-4 23 7 2-1-2 5 0 8 1-6-2 0 13-11-3-1-11-4 0 1 2"/><path class="p4" d="M1093 1037l-3 4-3-4 2-9 2 0 3-5-2 32 0-28-1 4-1-3 3 0 1-2 1 10-2-1-1 8 5 3 3 6-1-3 1 5 0 8-5 10-3-8 2-7 2-9-4 0-2 1-1-2 0-1 1-6 3 1-1 0 1 4-2-1 4 5-1 0 2 1 1-1 1-8 1-3 2-1 1 5 2 5 0-9 0 5-1 4-1-2 0 0-1 9-2-1"/><path class="p2" d="M1083 1014l1-3-3-2 0 3 3-4-2-1 1 1-1 8 2 1-1 5 0-4 2 0 2-4-1 1 0 49-4-51 1 4 0-1 1 0-1-2-2 1 4-2 1 1 2 74 0-76-4 1 0 0 0 3 25 8 3 6-11-16-6 4 7-13 8-5-10 0 1 5-3-5-9 6 11 16-3 11-5-13 3 4-10-3-6-10-1 6 3 72 1-80 6-6 0 3 1 1 0-1-5-4-5 13-1-4 4-6 9 7-1-9-5-4-18 34 10-6 2-2 1-1 0 0 1 1 0 2 0-3 3 0 0 1 0-1-1 1 4 0 2 1-2-3-2-3 0-2 0-5-1 1-3 48 0-43-3-2 2 1 0 0 0 2 3 0-1-6 3-2-1-11-3-2 3 11-4-6 3 9 0-1 4 67 5-66 7-11-5 5-10-21-4-3-4 2-4 5 9 7 6 9-4-4-6-13-1 7-9 11 8 5 4-4"/><path class="p6" d="M1124 1019l-2 1-6 5 1-1 3-2-1 0-2 0 1-1-2 1 2 3 13-33 3 8 1 1-4-5 5 9-3-6-5-10 4-4-10 4 6-5-7 40-3-2 1-1-1 0 9 14-6-3-19-8 15-3 2 9 9-3"/><path class="p1" d="M1090 1008l-6-6 7-5 6-7 2 11-32 4-1 0-1-1 2 1-3 5 0 1 0 2-1 0 0-1 1-1 0-1-1 0-1 0 0 0 0-2 4 2 1 0"/><path class="p7" d="M1098 1018h0"/><path class="p9" d="M1096 1034l-1-1-1 0-1 0-1-2 0 0 6 1 0 0-17-1-3 0-3 1-1-1 2 0 1 0-7 1 4 1-2 0 1 0 3-1 1-1 1 0-3 1-25-11 9 4-2 0 0 2 6-2 3 0-4 2-3 0 2 1 8 2-3-1-1 3 10 3 9-2-25 2 6-3 10 0-5-2-2 0 6 2 22-1"/><path class="p8" d="M1099 1025l5-1 1 3 5 3-1-1-7 1-4 4-1-5 0-2-1 3-3-3-2 0 2 1 4-3-1 2-7 2 4 1-2 1-2 1 5 1 0 1 0-4 1 0-7 14 14 4 11 5 1 4-18 1 1-3 9-4 4-5 14-6-2-3-7-1-3 1-5 0-1-8 1-5-22-8 17 10-1-2 0 1 3-2-2 2-3 3 0 1-3 0-1-1-1 0 3 0 1 1-4 1-2 0-2-2 0 1-3 1 4 3 2 0 4 1 2 0 6-4-1 3-1 0 1-3 3 0-2 4-4 1 1 0-6 2-1 0"/><path class="p3" d="M1093 1013l-9 0 2-8-1-8 3 4-2 6 1 0-1-2-4 2 1-2 18 10 11 8 2-4 2 14-4-17-6-29 5-3 1-2 5 4-6 13 1 9-32 19-5 0-2-13-2 8 2 19-1-21-2-7 3 15 6 32 8-33-7 9 4-2 3 40 3-38-3 14 1-5 8 13-6 24-4-45 4 9 0 16-3-20-4-25 1-1 1 8 0 65 0-65 0-3 3-3-1-1"/><path class="p4" d="M1099 1042l-1-1-5-6 1 1 0-6 2 1-1 4-1 0-1-6 1 0-1 0 3 7 5 40-7 9 2-14-6 10 7 0"/><path class="p9" d="M1099 1030l-23 4 1 0 4 1 8 0-5 0-1 1 1-1-7-1-2 0 3 0-4-1 12-4-8 1 7 1"/><path class="p2" d="M1080 1014l1 2 0 4-1-2-1-2 1-2-1-2 3 3 1-1 0-1 0-1 3-7 0 0 0 3-2 4 1-3-1 2-3 4 1 1-1 0 0 2 0 2-1 49 1-46-1-4 0 2 0-1 1 4-2 1 0-1 2-1 0-4 3 3 1 3-1-1-2-3 0 1 3-1-1 1-2 0 1-2-1-2-4-4 2-3-1-1-2-3 8 6-1-3 1 1-2-5-4 10 1-2 1 0 0 1 2-3-5-4 2-2-2-1-2 1 0 3 0 3 3 2-2-3 0 4 0 1 0 5 3-2 1 2 1 0-2-4 0 0 1-4 0 1 0 5 0-4 1-1 0 0 2-1-1 3 3-1 3 4-3 3-1 39 0-42-4 0 1 1-1 2-1 3"/><path class="p7" d="M1084 1021l11 2 2 0 2 2 4 4-6 1 10-8-10 0 7 1 9-1 0 7 5-2 10-4-11-1-7-3-1 4 3-1-8 4-4-2-13-1 8-2 11 12-2-1-2 0"/><path class="p5" d="M1102 1022l-2-1 1-1 2-1-5 1 2 0-3 3-1-1 2 2 0 2 1-1-5-3"/><path class="p8" d="M1111 1027l-2 0 1-2-2 1 3 1 1 1 3-2-18 1-1 0-1 2 0-2 4-1-3-2 0 0 1 0-5 1 0 2 3 2 8 6-5-5-1 1-1-6-2 0-2 0 5 7 8-2-4 6 3 0-4-1 3-5 1 4 0 0 3-1-3 0 5 0 3-1-4 1 4 0-2-1"/><path class="p3" d="M1086 1023l2-4 0 5-1-5-1-2 1 3 2 3 0-3 1 4 0-9-1-2-3-1 0-3 2 0 0 2-4 15 2 4 1 0-1-7 1 1 1-1-2-6-3-10 1-1 0 2 2 0-1 7-2 0 0 3 0 46-2-47 1 4-1 1 2-1 3 0 0 0 0-2 0-2-1 3-5 71-1-99 6 15 1-19 5-5-5-2 1 11 6-6-3 0-6 4 0 90 4-90-5-8 5 12-8 6 7 3 1-1-7 0 4-2-2 7 5-10-4 16-5-8-2-5-4-6 2 5 7-6-6 3 12-2-3 15-1-11 0-7-3-3-3-6 3 6-7 6-2 3 5-8 1 7 0-6-7 16-5-3 9-9-5-2-9-9-5 0 1 87-4-78-1 5 2-6 11 4 8 79-1-57-1 7-6-10 27 4-1 68 0-56 0-4-1-4 2 0 0 1-2 6 1-1 0 2-1 2 1 2 1 3-2-6 4-6 2 5-3 0-2 3-2 6"/><path class="p6" d="M1124 1022l-1-1 0-1-2 1-3 4-34-3 31 4 0 0-2 0 2-2-1 0 1-2 4 6-2 4 2 0 0-2-9-7-4 4 0 0-2 0-3 0 0 2 0 2-4 1 0 0-2 0 5-1 2 0 3-5-19-6 18 4 9-17-5 4-3 9-2 7-4-2 0-1 4-3 2 0 1-9 0 1-8 1-4-4-7-1 10 8-1-7-3-3 7 2-2 2 10 10 0-2-2 2 0 0-2 2 2-1 0-1 4 0-2 0-1 0-3 3-2 0 3-2 2 0-5 4 3 1-1 1 0 0 5-2-2-1-1 0-5 0 5 1"/><path class="p1" d="M1066 1003l1 0 0 0-1-2 2-2-1 2 3 2 1 1-2 1-1 1 0 1-2 0 0-4-1 1-1-4 4 3-4 1-2 1-1 0-2-2 1 2 1-1 3 0 1 0"/><path class="p3" d="M1089 1041l4-4-1 1 0-2 1 3 1-4 0 3-2-5 0-7-2 8-17-38 1-2 2 8 9 5 0 5 0-2-10-5 8 70-3-58 11 12-1-3-1-8 1 4-1-1-2 0 0 4-2-2-9-33-3-4 6 1 3 4 10 8-5 6 0 16 3-5 2-16-6-11 0 1 0-1 0 34 5 1-5 9 2-17-7 2 2 2-3 9 1 8 5 7-7-10-6 58 4-23"/><path class="p7" d="M1105 1030l0 2-1-1 4 0 0 0-1-1 0-1 2 1-6-5 1 0 0 1 2 0 2-2 2 0-3 0 1-1-3-2"/><path class="p4" d="M1099 1034l-7-8 0 3 2-5 2-4 4 21-7 8 10-37-10-11 2 2 10-4-5-15-1 9 0-1-6-7-7-3 0 24-7 16 13 19 0-5 2 2 2 8 0-2-2 5-13 29-2-9"/><path class="p8" d="M1109 1025l-2 1 0 0 0-2 3 1 1-2 2 1-5 0-16 7 4-1-5-1 2 1 3 0-3-2 1 0-3 1 1-1-5 1-24 17 10 3 11 0-11 0 39-24 9-9-18 5-12 8 34-23 11 7-11-3-7 6-23 3 17-14-2 0 6 4 7-3-13 1-26-2 1 1 4 0 7 11-4-5 8 6 1-11-11-2-6 8 0 1 10-10-15 2 13 1 12 5 4-8-10 11 1-6-17-1-5-3 5 10 7 8 8 0 1 3-2-1 2 0 0-2 0 0 0 1-1 1 5-7-8 11-6 5 15 4 4-7-3-13-13 25 3 6-5 1 0-3 5 12 3-8 4-13 4-24-17 14 16-16 0 2 0 10-3 0 4-1-5 4-5 0-3 0 2-1 9 2 1 1-7 1-4 4-4 5-6 2 2-6 1 0 0-1 2 1 0 0 2 0-1-4 3 1 2-2 1 0 2-2-7 2 0-7-1 8 2-2-1 1 0 1 0 4 1 1-1-2 0 0 7 3"/><path class="p6" d="M1118 1029l1-2 0-1 1-1 2 4 0-2 1-4-1-1-4-1-1-2 1 2 0 0-32-25-13 5-4-3 47 30-3-1 0 3-3 1 0 2 1-2 1-2 1-1-3-2 3 2 1 1 2 2 1-1 0 0 0-3 0-1-1-1 1-2-1 3-1 1 18 11 3-2-12-5-7-4-2 6 2-13-1 1-6 10 3 0 2-2-9-10-2 17 5 4-37-12-7-4 5 6 0 8 4-6-1-5 9 2 25 2-1 3-7-9 4 0 3 2 2 0 3 0 2 0 5 1-4-3-3 16 3 0-9 3 3-2 14-5-7-8-1 3-2-1 8-12-5 2-1 4"/><path class="p5" d="M1100 1023l0-1 6 0 1-2 3-1 1 3 0 2-2-1"/><path class="p2" d="M1078 1010l0-1 1 4-1 0-2-1 0-4 3 2 1 0-7 0 2-1 0 0 0-4-1-2-1 1-1 6 2 2 0-2-2 2-1 5 1 1 0 0 2-1 4-3 0-3 2 0 1-1-2-1 3 13 1 2-2-2-1 51 1-48-2-2 3 0-2 2 0-3 4-2 2-2-10-11-1-13-2 3 0-7-3 12 8 1-4 2-9-8 9-8 0 0 7 44-10 4 3 8 4-3 2 7-1 12 4-55 0 9-2-6 8-13 3-6 10-2 7 7"/><path class="p1" d="M1070 1006l0-1 2 3-1 2-1 0-1 0-2 3-1-3 1 0 0-3-2 0 1-1-1 2 0-2 4 33-2-7 2-6-6-9 4-1 2 2-1-7-3 8 0-7 0-2-3-4-6 2-3 1 8-2-2-4"/><path class="p9" d="M1081 1035l3 2-4-2-27 1 2-2 0 1-2 1 27 3 9-2-29-9-7 5 13-2 10-1-7-1 9 2 7 4-9 1-3-4-6 0"/></g></g><clipPath id="kc34"><rect x="1296" y="977" width="127" height="127"/></clipPath><g transform="scale(.5)"><g clip-path="url(#kc34)"><path class="p7" d="M1323 1026l-7-2 0 3 0-2-2 0 0 1"/><path class="p1" d="M1326 1008l0-3 0 2 0 0 0 1-1-1 0 0 0 2 0 3 1 0 0 1 0-3 5 15-2 3 0 7 1-11-3-1 1 2 0-2-1-1-1-6 3-13 1 3-1 1 0 0 1 0 1-2-1-2 0 1-1 2-2 2 0 1 0-2 1 3 0-4 0 1-1-1 1 3-1-5 2-1 0 0-1 1 0 4 0 0-1-1 1-2 1-1-2-3 0 7 3-13-5 5 6 22-6-6 0 1 0-1"/><path class="p8" d="M1320 1028l-2 4-1-1-3-6-7 10 2-3 0-6 3 8 0 1 1-11 2 5 0 3 0-1 1-3 1 0 1 2 0-1-1 0 2-3 0-1"/><path class="p9" d="M1318 1032l-1 1-1 2-1 4"/><path class="p6" d="M1317 1026l-7-1-2-9 2 7-3-15 1 8 2-2 0-6 1 4 0 4 1-8 1 18-5-15 7-3 3-2 1-2 0-12-2 4 0 9-1 16 0-1 0 0 1 2 0-4 0 1 1 2 0 0 1 0-1-2 1-1-1 2 0 4-1 2 3 12 0 7-4-2 3 1 4-1 1 1-3 8-2-2-10-13 3 1 11 4-1-5-5 2 5-2-1 1 5-2-1-1-1 2-2-10-5 4 0-5 2 1-1-8"/><path class="p2" d="M1327 1024l1-2 1-13 0 10-1-6 0 2 0 3-1-2 2-4 0 0 1-1 0 0-1 4-10-6-5-3-3 7 3 0 2 1-1-15-1 2 0-13 3 0-2-5 0 10 5 5 0 11-5-8 12 5 0 5 0 1-2-3 1-1 0 3 1 0 59 75-51-82-1 5 1 0-2-3-1-2-2 0-2-3-1 0 0 3 2 0 0 1-2 1-1 0 0-2-1-2 0 2-1-1 2-1-1-2-1 2-3 32 4 2 9 4-1-2-3 16-1 0-5-7-1-7 0 2-7 2 0-5-1 5-4-4-1 7 0 2 0-13-3-16 6-4 5 2 6-2-3 0 1 19 2-12 4 2 1 1 5 5-7 15 4-4 0-7 5-10 2-11 0-2-5 6 4-1-2-14-1-13 7-5-9 12-1 6-5 2-7 10-4-4 3-5 8 16-2 1 4-1 5 3-2-3-2-5 2 3 0 1 2-16-1 11-4 11 0 6 5 11 0 4 1 2-1 4"/><path class="p3" d="M1335 1014l3 0-1 0 0-7 3 3 0-4-2 5-2-5 1 5-1 5 2 3 6-10-18 18 1 3-4 3 6 6-1 3 2-10 0 0-2-1-3-2 0 0 4 2 0-8 5 4-3 1 0 3-1-6-1-3 0 1-1-4 1-1 1-3 0 8 2 2-1-2 0 6 0-1 3 1 0 3 1 2 0 5 1-2-2-3-3-1-1-3-1 1 0-1 0 0 4-4 1-5 1-3-4-2 10-8-4 2 1 4-1 4 3 0 0-3-2 13 2-4 1-1 3-4 2 3 2 7 0 2-2-2-30-35 15 29 3 3-2-4 2 5 0 1-1-3-2-3 3 30 1-3 3-19-3-6-1 2 2 0 0-6 3-1 1 2-2-2-3 1-3-4 2-2 0 1"/><path class="p5" d="M1316 1022l1 5-2-27-3 24-1-16 2 3-3 3 1-2-2 5-2 6 13-4 0 3 0 1 0 0-2 0 0 1 0 2 0 0 0-1 0 0 1-3 0-1 0 3 0-2 0-3 0-1-7 7 5-4 0 0 0 0-1-2-1 1-1 1 1 0 0 2-1-2 1-1 0-3 2 4-1-1 2 0 0 3 0 3 1 3 0 0 1-3-1 4-5-6 3-4 1 7 0 17 1 0 0 1 0 0-3-1 0-5-3-3-4 13 1-3 0-4"/><path class="p5" d="M1314 1020l0 2 2 1 7 10 0-7-2-8 3 12-1 8 2 1-4-5-5-8 0-3 3-9-3-2 2-6-5 21 7-13 1-11 2 1-15 23 1 2 0-2 0 0 3 1-1-2-3 13-1-3 0-11 4 0 2 2"/><path class="p9" d="M1323 1034l-1-1 1 0-1 0 1-2 0 0 0 1 1 0-5-1 1 0 0 1 1-1-1 0 0 0 0 1 0 1 0 0-1 0 0-1 1-1 0 0 0 1 3-11 0 4-1 0 1 2 1-2 1 0-2 2 1 0-2 1-5 2-3-1 1 3-1 3 0-2 1 2 1-3-4 0 2-2 1 0 2 2-2-1"/><path class="p4" d="M1325 1037l0 4-3-4 3-9 0 0 1-5 0 32 1-28-2 4-1-3 2 0 3-2 0 10-7-1 1 8-2 3-1 6-1-3-1 5 0 8 3 10-2-8-1-7 1-9-1 0 1 1 1-2 0-1 2-6 1 1 3 0 0 4-1-1-2 5-1 0-3 1 2-1-1-8-1-3 2-1-1 5 3 5 2-9 0 5 1 4-1-2 1 0-1 9 1-1"/><path class="p8" d="M1312 1025l-1-1 1 3-1 3 0-1 1 1-1 4 1-5-1-2 1 3 6-3 0 0-2 1-1-3 1 2 0 2-1 1-1 1 0 1-1 1 2 1 1-4 0 0 1 14-1 4-2 5 2 4-2 1 0-3 2-4-3-5-2-6 4-3-1-1 0 1 2 0 3-8-4-5-2-8 2 10 1-2 0 1-3-2 0 2 1 3 0 1 3 0 0-1 1 0 0 0 0 1 0 1 0 0 0-2-1 1-1 1 0 3 1 0-1 1 0 0 0-4-1 3 1 0 0-3-1 0 1 4 0 1-1 0 0 2 0 0"/><path class="p6" d="M1319 1019l0 1-1 5-1-1 0-2 1 0 0 0-1-1 1 1 0 3-6-33 1 8-1 1-2-5 3 9 0-6-2-10-3-4-1 4 1-5 9 40-1-2 0-1 1 0-3 14 3-3-1-8-3-3 6 9 2-3"/><path class="p3" d="M1335 1013l-4 0 1-8-2-8 1 4-1 6 4 0-3-2 1 2 2-2 24 10 8 8-15-4-7 14-1-17 11-29-6-3-12-2 3 4 3 13 7 9-25 19 6 0-4-13-3 8-9 19 12-21-8-7 4 15-2 32-1-33 5 9-3-2 0 40-5-38 1 14-1-5 11 13 2 24-9-45-7 9 2 16-3-20 22-25 0-1-1 8 3 65-2-65 2-3-4-3-2-1"/><path class="p1" d="M1330 1008l0-6 0-5-1-7-1 11-5 4 0 0 0-1-1 1 2 5 0 1 1 2 0 0-1-1 0-1-1-1-1 0 1 0-1 0 0-2-1 2 1 0"/><path class="p7" d="M1309 1018h0"/><path class="p2" d="M1326 1014l1-3-3-2 1 3 0-4 2-1 0 1 0 8-1 1-1 5 1-4 0 0 0-4 0 1 65 49-64-51 0 4 1-1-1 0 0-2 1 1 1-2-1 1 67 74-69-76 0 1 1 0 0 3-6 8 0 6 3-16-5 4-1-13 3-5 1 0-5 5-1-5-1 6 3 16 4 11-3-13-5 4 2-3 2-10 1 6 87 72-81-80-1-6-4 3 1 1 2-1-3-4-1 13 2-4 7-6 8 7 1-9-3-4-26 34 17-6 0-2-1-1 1 0-1 1-1 2 1-3-1 0 1 1 0-1 0 1-1 0 0 1-2-3 1-3 2-2 1-5 0 1 78 48-78-43-1-2-2 1 1 0 0 2-1 0 2-6-2-2 8-11-8-2 2 11 0-6-6 9 0-1 75 67-73-66-1-11 0 5-1-21-1-3 7 2 5 5-1 7 3 9 3-4 6-13-7 7-8 11 0 5-4-4"/><path class="p7" d="M1315 1021l1 2 4 0-1 2-1 4-1 1 3-8-1 0 2 1-1-1 0 7-1-2-3-4-2-1 0-3 1 4 3-1 2 4 4-2-1-1-2-2-7 12 0-1 0 0"/><path class="p3" d="M1331 1023l2-4-1 5 0-5 0-2-2 3-1 3 1-3 1 4 1-9 5-2 4-1-1-3-1 0 0 2-1 15 0 4 4 0-1-7-1 1-2-1 1-6-5-10 1-1-4 2-3 0-1 7 0 0-1 3 2 46-3-47 2 4 0 1 1-1 3 0-2 0 1-2-1-2 0 3 12 71 1-99 6 15 2-19-4-5-3-2-2 11 0-6-3 0-12 4 11 90-1-90-7-8-2 12 10 6 11 3 11-1-1 0-5-2-9 7-2-10 8 16 2-8 5-5-8-6 0 5 1-6 3 3-12-2-7 15-5-11 0-7 14-3-7-6 3 6-9 6 5 3 4-8-7 7-2-6 4 16-10-3-1-9-4-2 6-9 4 0 5 87 4-78-11 5 7-6-8 4-4 79-6-57 5 7 3-10 4 4 0 68 1-56 0-4-2-4 0 0-2 1 0 6 2-1-3 2-2 2 3 2-3 3 4-6 6-6 2 5 0 0-3 3-2 6"/><path class="p9" d="M1318 1030l2 4-1 0-1 1 1 0 0 0 0 1 0-1-1-1 1 0 0 0 0-1-4-4 0 1-2 1"/><path class="p6" d="M1316 1022l0-1 1-1 1 1-1 4-3-3 2 4 0 0 0 0 2-2 0 0-1-2 1 6 0 4-1 0 1-2-3-7 1 4 1 0 0 0-1 0-1 2 1 2 0 1 1 0 0 0 1-1-1 0-2-5-4-6 4 4 5-17 0 4 1 9-1 7-5-2-3-1-3-3-1 0 4-9-5 1 1 1 1-4-2-1 5 8-2-7 1-3 3 2-1 2 4 10 0-2 1 2 0 0-1 2 1-1-2-1-1 0 1 0-1 0 0 3 1 0 0-2 1 0 0 4 0 1 0 1 0 0 0-2 0-1 0 0-1 0-1 1"/><path class="p4" d="M1332 1042l-2-1-14-6 0 1 1-6 1 1 1 4-2 0-1-6 2 0 0 0 0 7 13 40-1 9 5-14-2 10-5 0"/><path class="p5" d="M1317 1022l0-1 0-1-1-1 0 1-1 0 0 3 0-1 2 2 0 2-1-1-1-3"/><path class="p8" d="M1317 1027l-1 0-1-2 1 1-1 1 0 1-1-2 1 1 0 0 0 2 0-2 1-1 1-2-1 0 1 0 0 1-1 2 1 2 0 6 1-5-2 1 0-6-1 0 2 0-3 7-1-2 4 6 0 0-2-1 2-5 0 4-1 0 2-1-1 0 1 0 0-1 0 1-3 0-1-1"/><path class="p2" d="M1322 1014l-1 2-1 4 1-2 2-2 0-2 1-2 0 3 2-1-1-1 2-1-1-7 0 0-1 3 1 4-1-3 1 2-1 4-1 1 0 0 1 2-1 2 84 49-79-46-1-4-1 2 0-1-3 4-1 1 1-1 1-1-1-4 0 3 2 3 0-1-1-3 0 1 1-1 0 1-1 0 2-2-1-2-1-4 2-3 0-1 1-3-2 6-1-3 1 1 1-5 0 10-1-2 2 0 0 1-1-3-6-4 2-2 1-1 1 1 0 3 1 3-1 2-1-3-1 4 1 1 0 5 2-2 2 2 1 0-1-4 0 0 0-4 0 1 2 5-1-4 0-1 1 0 0-1-2 3 0-1-1 4 2 3 49 39-47-42-1 0-1 1 0 2 0 3"/><path class="p1" d="M1321 1003l1 0 0 0 0-2 0-2 0 2 0 2 0 1 1 1 1 1 0 1 0 0-1-4 0 1 0-4 0 3 1 1 0 1 0 0 0-2 1 2-1-1 0 0 0 0"/><path class="p4" d="M1314 1034l-1-8-2 3 8-5 1-4-3 21 9 8-7-37-5-11 3 2-2-4-1-15-2 9-2-1 4-7-3-3 2 24-2 16 17 19 1-5-1 2 2 8 1-2 2 5-10 29-7-9"/><path class="p2" d="M1329 1010l-2-1 2 4 0 0 1-1 1-4-2 2-2 0-2 0 1-1 0 0-2-4 0-2-3 1-1 6 1 2-1-2-1 2 0 5 1 1-1 0 2-1-1-3 1-3 4 0 0-1 1-1 4 13 0 2 1-2 56 51-58-48 1-2-1 0 0 2 1-3-1-2 1-2-18-11 3-13 7 3 6-7 6 12-5 1 1 2 4-8-5-8-5 0 12 44-1 4-1 8 0-3 3 7 2 12-24-55-1 9-4-6 5-13-1-6-6-2 2 7"/><path class="p3" d="M1330 1041l6-4 0 1-1-2-1 3 1-4-2 3 4-5 0-7-1 8-4-38 0-2 1 8-10 5 1 5-2-2 4-5 83 70-71-58-4 12-1-3-2-8-1 4-3-1 2 0-2 4 1-2 8-33 3-4 4 1-3 4-9 8 6 6 1 16 1-5 5-16-2-11 10 1 9-1-2 34-6 1 2 9-3-17-11 2 8 2-2 9-10 8-2 7 17-10-22 58 9-23"/><path class="p5" d="M1318 1023l-1-1 0 0 0-2 1-1 0 3 1 2-2-1"/><path class="p1" d="M1327 1006l-1-1 0 3 0 2 0 0 0 0 0 3 0-3 0 0 1-3 0 0-1-1-1 2 0-2 3 33-2-7-2-6 1-9 0-1-1 2 0-7 1 8 0-7-2-2 1-4-2 2-1 1 0-2 0-4"/><path class="p6" d="M1316 1029l0-2 1-1-1-1 1 4 0-2 0-4 1-1-1-1 1-2-1 2 1 0-5-25 0 5 3-3-1 30 1-1-1 3 1 1 0 2 0-2 1-2 0-1 1-2 0 2-1 1 1 2-1-1 2 0-2-3 1-1-1-1 0-2 0 3 0 1-2 11 4-2 3-5 3-4-3 6 0-13-1 1-3 10 0 0 1-2-3-10 1 17-1 4-3-12 1-4 1 6-1 8 2-6-1-5 3 2-1 2-2 3 1-9 0 0 0 2 1 0-1 0 0 0 0 1 0-3-1 16 0 0 1 3-4-2 2-5 1-8-4 3 1-1 2-12-1 2 3 4"/><path class="p8" d="M1314 1025l0 1 0 0-1-2-1 1 0-2 1 1 2 0 0 7 1-1 1-1-1 1-1 0 0-2 1 0 1 1 0-1-1 1 4 17 3 3-2 0 2 0 0-24 0-9-10 5-3 8 5-23-1 7-2-3-3 6 4 3-2-14 0 0 0 4-3-3 1 1 3-2 1 1-2 0-1 11-2-5 3 6-1-11-3-2 2 8 0 1-1-10 2 2 4 1 0 5-4-8 0 11 1-6 5-1-1-3-2 10-1 8 4 0 1 3-1-1 1 0-1-2-1 0 0 1 1 1-4-7 10 11 0 5-2 4 2-7-10-13 9 25-3 6 0 1-3-3 1 12 4-8-1-13-4-24-1 14 0-16 4 2-2 10-1 0-1-1 1 4 0 0 0 0-1-1-3 2 0 1-2 1 0 4 0 5 2 2 1-6 0 0 0-1 0 1-1 0 0 0 0-4-1 1 1-2 0 0-1-2 2 2 4-7-5 8 0-2 0 1 1 1 0 4-1 1 1-2 1 0 0 3"/><path class="p7" d="M1318 1030l0 2 0-1-2 0 0 0-1-1-2-1 0 1 2-5 0 0-1 1 0 0 0-2-1 0 0 0-1-1 1-2"/><path class="p9" d="M1311 1035l1 2 5-2-1 1 0-2-1 1 0 1 3 3 1-2 9-9 1 5 0-2 2-1-2-1 1 2 1 4-2 1 1-4-2 0"/></g></g><clipPath id="kc35"><rect x="1428" y="977" width="127" height="127"/></clipPath><g transform="scale(.5)"><g clip-path="url(#kc35)"><path class="p8" d="M1472 1028l2 4 5-1 4-6 12 10-4-3-1-6 2 8-3 1 3-11 4 5-1 3 1-1-1-3-2 0 0 2-1-1-1 0-1-3-1-1"/><path class="p2" d="M1465 1024l-3-2 3-13-1 10 6-6 1 2 2 3 0-2 0-4-1 0 0-1 2 0 0 4 11-6 1-3 0 7-3 0-2 1-3-15 2 2-2-13-3 0 1-5 3 10-2 5 5 11 4-8-8 5-1 5-1 1 0-3-1-1 0 3 0 0-31 75 27-82 2 5-2 0 2-3 1-2-1 0 1-3 0 0 0 3 1 0 1 1-1 1 1 0-1-2 0-2-3 2 3-1-1-1 1-2 0 2 17 32-7 2-11 4 2-2 2 16-4 0 4-7 1-7 0 2 3 2-2-5 2 5-1-4 1 7 0 2 5-13 2-16-2-4-2 2-9-2-1 0 1 19-4-12 3 2 1 1-2 5 3 15 2-4-5-7 0-10-1-11 3-2 3 6-5-1-3-14 0-13 1-5 4 12 2 6-3 2 0 10-1-4 0-5-4 16-2 1-2-1-1 3 3-3 7-5 0 3 7 1-1-16 3 11 2 11 2 6-3 11 3 4-2 2-3 4"/><path class="p1" d="M1474 1008l1-3 1 2-1 0 1 1 0-1-1 0-2 2 1 3-1 0-1 1-1-3-11 15 1 3 2 7 3-11 0-1-1 2-5-2-6-1 3-6 13-13 0 3 0 1 0 0 0 0 0-2 2-2-1 1 1 2-1 2 2 1-2-2 0 3 1-4 0 1 1-1-1 3 1-5-1-1 1 0 0 1 1 4-1 0 1-1 0-2 0-1 0-3 3 7 0-13 3 5 2 22-6-6 0 1 0-1"/><path class="p6" d="M1489 1026l1-1-1-9-5 7 5-15-1 8 4-2 5-6 1 4 1 4 3-8 2 18-3-15-4-3-3-2 3-2 2-12 5 4 0 9-11 16 1-1 0 0 1 2 0-4 0 1 0 2 0 0 2 0 0-2-1-1 0 2 0 4-2 2-13 12 0 7 3-2 3 1-5-1-4 1 5 8-1-2 11-13 2 1 1 4-9-5 0 2-3-2-2 1-5-2-2-1 0 2 7-10-6 4 5-5 2 1 5-8"/><path class="p5" d="M1486 1022l-2 5-5-27 5 24 3-16 3 3 4 3 5-2 3 5 0 6-18-4 0 3 3 1 1 0-1 0 0 1 2 2-2 0 0-1-1 0-1-3 0-1 1 3 2-2 1-3 0-1 3 7-2-4-2 0 0 0 0-2 0 1 3 1-2 0 1 2-3-2 0-1 1-3-1 4-2-1 1 0 0 3-1 3 0 3 1 0-1-3 3 4 0-6-3-4-6 7-1 17 5 0-3 1 4 0 7-1-1-5 3-3 0 13-3-3-3-4"/><path class="p3" d="M1469 1014l1 0 0 0 0-7-1 3-2-4 0 5 1-5-2 5-1 5-2 3 13-10 0 18 0 3 1 3-3 6 2 3 0-10-1 0 1-1 2-2 0 0-2 2-2-8-1 4 1 1 0 3 0-6 1-3 1 1 0-4 3-1-2-3-2 8 1 2-1-2-1 6 1-1-2 1 2 3 0 2 1 5 0-2-2-3 2-1 0-3-3 1 1-1 0 0-2-4-1-5 2-3 2-2 1-8 2 2 1 4 0 4-3 0-1-3-5 13-1-4 0-1-2-4 0 3-1 7 0 2 0-2 8-35 0 29-2 3 0-4-1 5 2 1 0-3 2-3 4 30 0-3-7-19 1-6 1 2-1 0 1-6-1-1 0 2-1-2 2 1-1-4 0-2 0 1"/><path class="p7" d="M1484 1026l8-2-1 3 1-2 1 0 0 1"/><path class="p9" d="M1500 1032l0 1-3 2 9 4"/><path class="p7" d="M1490 1018h0"/><path class="p3" d="M1472 1013l3 0-1-8 2-8 1 4 0 6-2 0 1-2-1 2 0-2-10 10 1 8 2-4-1 14-4-17-1-29 5-3 5-2-3 4-3 13-5 9 20 19-1 0-2-13-1 8 7 19-5-21 0-7-4 15 3 32 3-33-7 9 9-2 6 40-3-38 3 14-2-5-4 13-3 24 3-45 1 9-3 16 3-20-5-25-2-1 2 8 0 65 0-65-2-3 1-3 0-1"/><path class="p6" d="M1488 1019l-1 1 3 5 0-1-2-2 1 0 1 0-1-1-1 1 0 3-1-33-3 8 1 1 4-5-3 9-5-6 0-10 6-4-1 4 0-5-1 40 1-2 0-1-2 0 1 14 3-3-1-8 1-3 0 9-3-3"/><path class="p9" d="M1510 1034l22-1 0 0-24 0 0-2-2 0 0 1-1 0 2-1-1 0 25 1-25-1-2 0 1 0 2 1 9 1-7 0-1 0-1-1 0-1 0 0 20 1-28-11 2 4 6 0 5 2-3-2-2 0 0 2 7 0 6 1 12 2 1-1-9 3 5 3 2-2-9 2 1-3 2 0-5-2-2 0-6 2 0-1"/><path class="p8" d="M1498 1025l1-1-1 3 2 3 1-1-1 1 0 4-1-5-2-2 1 3-2-3 0 0-1 1 0-3 1 2 2 2 0 1 0 1 0 1 1 1-3 1 0-4 0 0-3 14 0 4 2 5 3 4-1 1 3-3 0-4 2-5-8-6 2-3 8-1 1 1 2 0-5-8-2-5-2-8 2 10-1-2-1 1 1-2 3 2-2 3 1 1-1 0-3-1 0 0 0 0-1 1 0 1 1 0-1-2-1 1 1 1 3 3 0 0 1 1-1 0-2-4 1 3 0 0-1-3 0 0-3 4 2 1-1 0 0 2 0 0"/><path class="p2" d="M1474 1014l-1-3 3-2 1 3-1-4 0-1-1 1 1 8 0 1-1 5 2-4-1 0 0-4-2 1-24 49 24-51 1 4 0-1 2 0 0-2-1 1-2-2 0 1-29 74 29-76 1 1 0 0 1 3-4 8-2 6-1-16 3 4 1-13 3-5 1 0 2 5-3-5 4 6 3 16 1 11 3-13-5 4 0-3 0-10 2 6-28 72 27-80 2-6 4 3 8 1-3-1 1-4-7 13-8-4 0-6-6 7 1-9-3-4 11 34-7-6 1-2 0-1 2 0 0 1 1 2-1-3-1 0-1 1 1-1 0 1-1 0 2 1 0-3-2-3-1-2 1-5 0 1-16 48 19-43-1-2 0 1-1 0-1 2 0 0-1-6 1-2-3-11 4-2-10 11 2-6 3 9 8-1-23 67 27-66 2-11-4 5-15-21-2-3 7 2-2 5-3 7 1 9 4-4-1-13 5 7 1 11-2 5 1-4"/><path class="p5" d="M1486 1020l1 2 1 1 0 10 5-7-4-8-2 12 0 8 2 1 0-5 1-8-3-3 0-9 1-2 0-6 5 21-8-13 2-11 4 1 9 23-3 2-4-2-4 0-1 1 8-2 0 13 4-3 6-11 0 0 8 2"/><path class="p4" d="M1485 1037l0 4-1-4-2-9 1 0-1-5 1 32 0-28 2 4-1-3-2 0 0-2-1 10 0-1 1 8 0 3-1 6-1-3 0 5 0 8 2 10 0-8-2-7 0-9 2 0 0 1-2-2 0-1-2-6-1 1 0 0-1 4 2-1 0 5 3 0 0 1-2-1 1-8 0-3 0-1-1 5 0 5-2-9 0 5 0 4-1-2-2 0 3 9-1-1"/><path class="p1" d="M1477 1008l-1-6 2-5 2-7 0 11-2 4 0 0 0-1-1 1-3 5 0 1-1 2-1 0 1-1 1-1-1-1 1 0 1 0-1 0 0-2 0 2 1 0"/><path class="p2" d="M1475 1014l1 2-1 4 0-2-2-2 2-2 0-2 1 3-2-1 1-1-1-1 1-7 2 0 1 3 0 4-1-3 0 2-1 4 0 1 1 0-1 2 1 2-31 49 29-46-2-4 1 2 2-1 0 4 1 1-2-1 0-1 0-4 0 3-1 3-1-1 1-3 1 1 1-1-1 1-1 0-1-2 0-2 1-4 0-3 2-1-2-3 1 6 0-3 0 1-2-5 3 10 1-2-1 0 1 1 0-3 3-4-1-2-1-1 0 1 1 3-1 3-1 2 1-3 0 4-1 1 0 5 0-2 1 2-1 0 0-4-1 0 1-4 0 1 2 5 1-4 2-1-1 0-2-1 1 3-2-1 2 4-1 3-28 39 27-42 2 0 0 1-1 2-1 3"/><path class="p9" d="M1510 1030l-2 4 1 0-1 1-3 0 0 0 1 1 0-1 19-1-7 0-11 0 2-1 0-4 12 1-8 1"/><path class="p1" d="M1474 1003l0 0 1 0 1-2-1-2 0 2 0 2 1 1-1 1 1 1 0 1 1 0-1-4 1 1-1-4 1 3 0 1 0 1 0 0 0-2 0 2-1-1-1 0 1 0"/><path class="p5" d="M1486 1022l-1-1 0-1 0-1 1 1 0 0-1 3 1-1-1 2 2 2 0-1 13-3"/><path class="p3" d="M1476 1023l-2-4 0 5-1-5 1-2 0 3 0 3-1-3-2 4 2-9-1-2-3-1-1-3 1 0-3 2 8 15 0 4-1 0-1-7-1 1 1-1 3-6-2-10-2-1 3 2 0 0 1 7 0 0 1 3-1 46 4-47 0 4 0 1-1-1 0 0 0 0 0-2 0-2-1 3-5 71-2-99 1 15-2-19 4-5 4-2 6 11-4-6 2 0-6 4-2 90 1-90 6-8-3 12-2 6-5 3-5-1-4 0 4-2 2 7-2-10-3 16-2-8-3-5 0-6 2 5-1-6 0 3 6-2 3 15 3-11-6-7 3-3 6-6-5 6 6 6-6 3-1-8 3 7 3-6-2 16 1-3 0-9 3-2-6-9 2 0 0 87-2-78 2 5-2-6 8 4 3 79 0-57-1 7-4-10 1 4-1 68 0-56 0-4 2-4-2 0 0 1 1 6 1-1 0 2 2 2-1 2 1 3-2-6-3-6-1 5 0 0 1 3 3 6"/><path class="p8" d="M1492 1027l3 0 1-2 1 1-1 1 0 1-1-2-3 1 1 0 1 2 0-2-2-1-1-2 1 0 0 0 1 1 1 2 1 2 2 6-1-5-1 1 4-6-2 0 0 0-3 7 5-2-1 6 0 0 1-1 0-5 0 4 1 0-1-1-1 0-1 0 1-1 1 1-1 0 0-1"/><path class="p6" d="M1487 1022l1-1-1-1-1 1 0 4 3-3 0 4-1 0 1 0-1-2-1 0 0-2 1 6 1 4 0 0 0-2 2-7-1 4 0 0-1 0 0 0-1 2 2 2 0 1-1 0 0 0-1-1 0 0 2-5 1-6-3 4-5-17-4 4 2 9-2 7 5-2 3-1-1-3-2 0-4-9 0 1 5 1 5-4 1-1-1 8 3-7-2-3 2 2 2 2-7 10 1-2-1 2 1 0 2 2-1-1-2-1 0 0 0 0 0 0-1 3 1 0-1-2-2 0 1 4-1 1-1 1 0 0-1-2 0-1 0 0 0 0 1 1"/><path class="p4" d="M1477 1042l3-1 3-6-1 1-2-6 2 1 1 4 2 0-1-6-2 0-1 0-1 7-3 40 0 9 3-14 4 10 1 0"/><path class="p7" d="M1493 1021l9 2-3 0-2 2-8 4-1 1-2-8-1 0-1 1-2-1-3 7-2-2 4-4 7-1 6-3 1 4-3-1-4 4-4-2 4-1 3-2-3 12-1-1 1 0"/><path class="p2" d="M1477 1010l1-1-1 4 0 0 1-1-1-4 0 2 0 0 4 0-1-1 1 0 0-4 2-2 0 1 0 6 1 2 0-2 0 2 0 5 0 1 2 0-2-1 0-3 0-3-6 0-1-1-5-1 7 13-1 2-1-2-25 51 24-48 1-2 0 0-1 2-1-3-3-2 0-2 20-11-3-13-5 3-5-7 0 12 2 1 1 2 1-8 2-8-1 0 1 44 1 4-1 8-3-3-2 7-7 12-8-55 3 9 3-6 0-13 0-6-1-2 3 7"/><path class="p7" d="M1493 1030l0 2 0-1 2 0-1 0-1-1 0-1 1 1-5-5 1 0 0 1 1 0 1-2 1 0 1 0 3-1 2-2"/><path class="p5" d="M1484 1023l2-1 0 0-2-2-1-1-1 3 2 2 0-1"/><path class="p9" d="M1531 1035l1 2 1-2-31 1-4-2-3 1-2 1 32 3-27-2 34-9-10 5-7-2-3-1 2-1-1 2 3 4-1 1 3-4-2 0"/><path class="p6" d="M1490 1029l1-2-2-1 0-1-2 4 2-2 0-4 1-1-1-1-1-2 0 2 0 0 8-25 0 5 0-3-7 30-1-1 1 3-1 1 1 2-1-2-2-2 1-1 0-2-1 2 2 1-1 2-1-1 1 0 0-3-2-1-1-1 0-2-1 3 1 1 3 11 0-2 2-5-3-4 0 6-1-13 3 1-1 10 2 0-1-2-14-10-1 17 1 4 29-12 0-4-5 6 0 8 2-6 5-5-2 2-19 2 1 3 6-9-1 0 1 2-2 0 1 0-1 0-1 1 0-3 0 16-2 0 0 3 0-2-2-5 3-8 2 3-3-1-1-12-1 2-8 4"/><path class="p3" d="M1476 1041l-4-4 0 1 2-2 0 3 2-4 0 3-2-5 0-7 0 8 3-38 1-2-1 8 6 5-2 5 0-2 6-5-33 70 19-58-1 12-1-3 2-8 1 4 2-1-2 0 3 4 2-2-7-33 0-4 4 1-7 4-1 8 5 6 0 16-2-5-7-16 1-11-6 1-3-1-5 34 1 1 1 9-3-17 4 2-5 2-1 9-1 8 3 7-2-10 29 58 1-23"/><path class="p8" d="M1499 1025l0 1 0 0-2-2 1 1-1-2-1 1 1 0-1 7-1-1-1-1 1 1 1 0 1-2-1 0-2 1 1-1 1 1 1 17 3 3-3 0-2 0-2-24 0-9 3 5 3 8-2-23 4 7 0-3 1 6-8 3 2-14 2 0-1 4 1-3 1 1 0-2 6 1-2 0-1 11-4-5 1 6-2-11 5-2-1 8-5 1-3-10-3 2 6 1-1 5 2-8-2 11-3-6-3-1-1-3 1 10 4 8 3 0-1 3 2-1-1 0 0-2 1 0 0 1-1 1 9-7-8 11 0 5 0 4-5-7 7-13-5 25 5 6-6 1 2-3 0 12-6-8-3-13 32-24-6 14-1-16-2 2-8 10-2 0 0-1-1 4 0 0-1 0 1-1 0 2 0 1 2 1 0 4 2 5-1 2 0-6 2 0-3-1 1 1 0 0-2 0-3-4 1 1 0-2 0 0 0-2 0 2-3-7 4 8-1-2 2 1 1 1 1 4-1 1-1-2 0 0-1 3"/><path class="p1" d="M1476 1006l0-1 0 3 0 2 0 0 0 0 1 3 0-3 0 0-2-3 1 0 2-1-4 2 0-2-4 33-3-7 0-6 5-9 3-1-1 2-1-7-4 8-1-7 2-2 1-4 1 2 2 1 1-2 2-4"/><path class="p4" d="M1483 1034l-1-8 3 3-3-5 3-4 0 21-2 8-1-37 3-11 1 2-2-4 2-15 1 9 4-1 0-7-1-3-2 24 3 16-12 19 1-5 0 2-2 8 0-2 0 5 4 29 0-9"/></g></g><clipPath id="kc36"><rect x="1561" y="977" width="127" height="127"/></clipPath><g transform="scale(.5)"><g clip-path="url(#kc36)"><path class="p6" d="M1601 1026l-2-1-5-9-2 7 61-15-3 8-3-2-3-6-3 4-3 4-3-8-2 18-3-15-3-3-3-2-3-2-3-12-3 4-3 9 23 16-4-1-4 0-4 2-4-4-4 1-4 2-4 0-4 0-4-2-4-1-4 2 67 4-2 2-40 12-4 7-4-2-4 1-4-1-5 1-4 8 67-2-69-13 67 1-20 4-2-5-2 2-2-2-2 1-3-2-2-1-2 2-2-10-2 4-2-5-2 1-2-8"/><path class="p8" d="M1599 1028l-3 4-3-1-2-6 8 10-3-3-3-6-2 8 67 1-2-11-2 5-2 3-3-1-2-3-2 0-2 2-3-1-2 0-2-3-2-1"/><path class="p9" d="M1609 1032l-2 1-2 2-2 4"/><path class="p2" d="M1627 1024l-2-2 33-13-3 10-45-6-4 2-4 3-3-2-4-4-4 0 67-1-2 0-2 4-65-6 68-3-2 7-2 0-2 1-2-15-2 2-2-13-2 0-2-5-2 10-2 5-2 11-2-8-41 5-3 5 68 1-2-3-2-1-2 3-2 0-2 75-32-82-2 5-2 0-2-3-3-2-2 0-2-3-2 0-2 3-2 0-2 1-2 1-3 0 67-2-4-2-5 2-5-1-4-1-5-2-5 2 26 32-3 2 5 4-2-2-3 16-2 0-3-7-2-7-3 2-2 2-2-5-3 5-2-4-3 7-2 2-2-13-3-16-2-4-3 2-2-2-3 0-2 19-2-12-3 2-2 1-3 5-2 15-3-4-2-7-2-10 67-11-2-2-2 6-2-1-3-14-2-13-2-5-3 12-2 6-2 2 12 10-6-4-6-5-5 16-6 1-6-1-6 3-5-3-6-5-6 3-6 1 66-16-2 11-2 11-2 6-2 11-8 4-2 2-2 4"/><path class="p1" d="M1658 1008l-2-3-3 2-2 0-3 1-3-1-2 0-3 2-2 3-3 0-3 1-2-3-8 15-3 3-2 7-3-11-2-1-3 2-3-2-2-1-3-6 50-13-2 3-2 1-3 0-2 0-3-2-2-2-2 1-3 2-2 2-3 1-2-2-2 3-3-4-2 1-2-1-3 3-2-5-3-1-2 0-2 1 24 4-3 0-2-1-2-2-2-1-2-3 30 7-4-13-4 5 9 22-47-6-2 1-2-1"/><path class="p7" d="M1631 1026l27-2-2 3-2-2-2 0-3 1"/><path class="p5" d="M1604 1022l-3 5 18-27-4 24-5-16-4 3-5 3-5-2-4 5 66 6-11-4-2 3-2 1-2 0-3 0-2 1-2 2-2 0-3-1-2 0-2-3-2-1-2 3-3-2-2-3-2-1-2 7-3-4-2 0-2 0-2-2-2 1-3 1-2 0-2 2-2-2-3-1 67-3-4 4-4-1-4 0-4 3-4 3-4 3-4 0-4-3-4 4 15-6-2-4-2 7-3 17-2 0-2 1-2 0-3-1-2-5-2-3-3 13-2-3-2-4"/><path class="p3" d="M1651 1014l-4 0-4 0-3-7-4 3-4-4-3 5-4-5-4 5-4 5-3 3-17-10 34 18-2 3-3 3-2 6-2 3-2-10-2 0-2-1-2-2-2 0-2 2-2-8-2 4-2 1-2 3-2-6-2-3-2 1-2-4-3-1-2-3 68 8-3 2-2-2-3 6-3-1-2 1-3 3-3 2-2 5-3-2-2-3-3-1-3-3-2 1-3-1-3 0-2-4-3-5-3-3-2-2 3-8-3 2-3 4-3 4-3 0-3-3 50 13-3-4-2-1-2-4-2 3-2 7-2 2-2-2-6-35-18 29-3 3-2-4-2 5-3 1-2-3-2-3 54 30-2-3-49-19-3-6-2 2 68 0-2-6-3-1-2 2-3-2-3 1-2-4-3-2-2 1"/><path class="p3" d="M1635 1013l-8 0-2-8-3-8-3 4-2 6-3 0-2-2-3 2-3-2 52 10-3 8-12-4-3 14-4-17-4-29-3-3-4-2-4 4-4 13-3 9 7 19-3 0-2-13-3 8-3 19-3-21-2-7-3 15-3 32-3-33-2 9-3-2 67 40-2-38-2 14-2-5-2 13-2 24-2-45-2 9-2 16-2-20 0-25-5-1-6 8-5 65-5-65-6-3-5-3-5-1"/><path class="p1" d="M1610 1008l-4-6-4-5-3-7-4 11 15 4-4 0-4-1-4 1 10 5-3 1-2 2-3 0-2-1-2-1-3-1-2 0 67 0-3 0-3-2-3 2-4 0"/><path class="p5" d="M1627 1020l-3 2-3 1 26 10-2-7-3-8-2 12-3 8-2 1-2-5-3-8-2-3-3-9-2-2-3-6-2 21-3-13-2-11-3 1-7 23-4 2-3-2-3 0-4 1 68-2-2 13-2-3-3-11-2 0-2 2"/><path class="p7" d="M1648 1018h0"/><path class="p4" d="M1633 1037l-2 4-2-4-3-9-2 0-2-5-2 32-2-28-2 4-2-3-2 0-2-2-2 10 11-1-3 8-3 3-2 6-3-3-3 5-2 8-3 10-3-8-2-7-3-9-3 0 68 1-3-2-2-1-3-6-3 1-2 0-3 4-3-1-3 5-2 0-3 1-3-1-2-8-3-3-3-1-3 5-2 5-3-9-3 5-2 4-3-2-3 0-2 9-3-1"/><path class="p8" d="M1604 1025l-3-1-2 3-3 3-3-1-2 1 67 4-3-5-4-2-4 3 10-3-3 0-2 1-3-3-3 2-3 2-3 1-2 1-3 1-3 1-3 1-2-4-3 0-18 14-2 4-2 5-2 4-2 1-2-3-2-4-3-5-2-6 68-3-2-1-2 1-2 0-45-8-2-5-2-8-5 10-5-2 66 1-2-2-2 2-3 3-2 1-3 0-2-1-3 0-2 0-2 1-3 1-2 0-3-2-2 1-2 1-3 3-2 0-3 1-2 0-3-4-2 3-2 0-3-3-2 0-3 4-2 1-3 0-2 2-2 0"/><path class="p2" d="M1632 1014l-2-3 13-2-4 3-4-4-3-1-4 1-4 8-4 1-4 5-4-4-3 0-4-4-4 1-4 49-4-51-4 4 68-1-2 0-2-2-2 1-2-2-2 1-2 74-2-76-2 1-2 0-3 3-45 8 67 6-2-16-3 4-2-13-2-5-3 0-2 5-3-5-2 6-3 16-2 11-3-13-2 4-3-3-2-10-3 6-2 72-2-80-3-6-2 3-3 1-2-1-3-4-2 13-3-4-2-6-3 7-2-9-3-4 48 34 21-6-2-2-2-1-3 0-2 1-2 2-3-3-2 0-2 1-3-1-2 1-2 0-3 1-2-3-2-3-3-2-2-5-2 1-3 48-2-43-2-2-3 1-2 0-2 2-3 0-2-6-2-2 34-11-3-2 15 11-4-6-5 9-4-1-4 67-4-66-4-11-5 5 28-21-3-3-4 2-3 5-3 7-3 9-4-4-3-13-3 7-4 11-3 5-3-4"/><path class="p6" d="M1651 1019l-4 1 2 5-2-1-2-2-2 0-2 0-2-1-2 1-2 3 23-33-2 8-3 1-3-5-2 9-3-6-3-10-2-4-3 4-2-5-43 40-3-2 67-1-4 0-58 14-5-3 68-8-2-3-3 9-2-3"/><path class="p9" d="M1634 1034l-2-1-2 0-2 0-2-2-2 0-2 1-2 0 15-1-2 0-2 1-2-1-2 0-2 0-2 1-2 1-2 0-2 0-3-1-2-1-2 0-2 1-8-11-2 4-2 0-2 2-3-2-2 0 67 2-6 0-5 1-2 2-2-1-2 3-2 3-3-2-2 2-2-3-3 0-2-2-2 0-3 2-2-1"/><path class="p4" d="M1648 1042l-2-1-39-6-3 1-2-6-3 1-3 4-3 0-2-6 67 0-3 0-4 7-47 40-2 9-3-14-2 10-3 0"/><path class="p7" d="M1636 1021l-4 2-5 0-4 2-5 4-4 1-5-8-4 0-4 1-5-1-4 7 66-2-3-4-2-1-3-3-3 4-3-1-3 4-3-2-3-1-3-2 11 12-2-1-2 0"/><path class="p2" d="M1648 1014l-4 2-4 4-3-2-4-2-4-2-3-2-4 3-4-1-3-1-4-1-3-7-4 0-4 3-3 4-4-3-4 2 68 4-2 1-2 0-2 2-2 2-2 49-2-46-9-4-2 2-2-1-2 4-2 1-2-1-2-1-2-4-2 3-2 3-2-1-3-3-2 1-2-1-2 1-2 0-2-2-2-2-2-4-2-3-2-1-2-3 48 6-2-3-2 1-2-5-35 10-3-2-3 0-3 1 67-3-9-4-3-2-2-1-3 1-2 3-3 3-2 2-3-3-2 4-3 1-2 5-3-2-2 2-2 0-3-4-2 0-3-4-2 1-15 5-3-4 68-1-2 0-2-1-2 3-2-1-2 4-2 3-3 39-2-42-2 0-2 1-2 2-2 3"/><path class="p6" d="M1631 1022l-3-1-2-1-3 1-2 4-3-3-2 4-3 0-2 0-3-2-2 0-3-2 0 6-4 4-5 0-5-2 34-7 35 4-4 0-5 0 9 0-2 2-3 2-3 1-2 0-3 0-3-1-3 0-2-5-3-6-3 4-41-17 68 4-3 9-4 7-4-2-4-1-3-3-4 0-4-9-3 1-4 1-4-4-4-1-3 8-4-7-4-3-4 2-3 2 6 10-4-2-4 2-4 0-4 2 68-1-3-1-3 0-3 0-3 0-3 3-3 0-3-2-3 0-3 4-3 1-3 1-3 0-3-2-3-1-3 0-3 0-3 1"/><path class="p8" d="M1648 1027l-2 0-3-2-2 1-3 1-2 1-3-2-32 1-3 0-2 2-3-2-2-1 67-2-4 0-5 0-4 1-5 2-5 2 22 6-2-5-2 1-24-6-3 0-3 0-20 7 27-2-2 6-3 0-2-1-2-5-2 4-2 0-2-1-2 0-2 0-2-1-3 1-2 0-2-1"/><path class="p1" d="M1633 1003l-2 0-2 0-2-2-3-2-2 2-2 2-2 1-2 1-2 1-2 1-2 0-3-4-2 1-2-4-2 3-2 1-2 1-2 0-2-2-3 2 68-1-4 0-4 0"/><path class="p5" d="M1643 1022l-2-1-2-1-2-1-3 1-2 0-2 3-3-1-2 2 20 2-4-1-46-3"/><path class="p3" d="M1614 1023l-3-4-2 5-2-5-3-2-2 3-2 3-3-3-2 4-2-9-2-2 67-1-2-3-3 0-2 2-20 15-5 4-4 0-5-7-5 1-4-1 42-6-21-10-3-1-3 2-2 0-3 7-3 0-3 3-2 46-19-47 67 4-2 1-2-1-2 0-2 0-2-2-2-2-2 3 1 71-4-99-4 15-4-19-5-5-4-2-4 11-5-6-4 0-4 4-5 90-4-90-4-8-5 12 68 6-4 3-4-1-3 0-4-2-4 7-3-10-4 16-3-8-4-5-4-6-3 5-4-6-4 3-3-2-4 15-4-11-3-7-4-3 67-6-3 6-3 6-3 3-3-8-3 7-3-6-4 16 22-3-3-9-4-2-4-9-4 0-4 87-4-78-3 5-4-6-4 4-4 79-4-57-4 7-3-10-9 4-2 68-2-56-2-4-2-4-3 0 68 1-2 6-3-1-2 2-2 2-3 2-2 3-2-6-3-6-2 5-3 0-2 3-2 6"/><path class="p9" d="M1616 1030l4 4-3 0-3 1-3 0-3 0-2 1-3-1-3-1-3 0-3 0-3-1 65-4-3 1-2 1"/><path class="p1" d="M1644 1006l-2-1-2 3-3 2-2 0-2 0-3 3-2-3-2 0-3-3-2 0-2-1 12 2-4-2-28 33-3-7-2-6-3-9 67-1-2 2-2-7-2 8-3-7-2-2-2-4-3 2-2 1-2-2-3-4"/><path class="p2" d="M1616 1010l-2-1-2 4-3 0-2-1-2-4-3 2-2 0 46 0-3-1-3 0-3-4-3-2-3 1-3 6-3 2-3-2-3 2-3 5-3 1-3 0-3-1-3-3-3-3 51 0-2-1-59-1 56 13-3 2-3-2-3 51-4-48-3-2-3 0-3 2-4-3-28-2-4-2 48-11-2-13-2 3-3-7-2 12-3 1-2 2-3-8-2-8-3 0 12 44-3 4-3 8-3-3-2 7-3 12 6-55-5 9-5-6-5-13-5-6-5-2-5 7"/><path class="p4" d="M1647 1034l-3-8-3 3-3-5-3-4-3 21-3 8-3-37-3-11-3 2-3-4-3-15-3 9-3-1-2-7-3-3-3 24-3 16 48 19-2-5-2 2-2 8-2-2-2 5-17 29-3-9"/><path class="p3" d="M1626 1041l-2-4-2 1-3-2-2 3-3-4-2 3-2-5-3-7-2 8 50-38-3-2-3 8-51 5-3 5-3-2 66-5-4 70-6-58 9 12-2-3-3-8-2 4-3-1-2 0-3 4-2-2-27-33-3-4-2 1-3 4-2 8-3 6-2 16-2-5-3-16-2-11 67 1-4-1-5 34-4 1-5 9-5-17-4 2-5 2-4 9-5 8-5 7-4-10-3 58-3-23"/><path class="p8" d="M1598 1025l-3 1-2 0-2-2 67 1-3-2-2 1-3 0-29 7-4-1-5-1-5 1-5 0-5-2-5 0 66 1-2-1-2 1-21 17-3 3-2 0-2 0-34-24-3-9 67 5-6 8-5-23-6 7-5-3-6 6-5 3-6-14-6 0-5 4-6-3-5 1-6-2 68 1-4 0-3 11-3-5-3 6-4-11-3-2-3 8-4 1-3-10-3 2-3 1-4 5-3-8-3 11-4-6-3-1-3-3-3 10-4 8 64 0-3 3-3-1-4 0-3-2-4 0-3 1-4 1-10-7-4 11-3 5-3 4-4-7-3-13-4 25-3 6-4 1-3-3-4 12 0-8 68-13-25-24-3 14-3-16-2 2 34 10-5 0-6-1-6 4-6 0-5 0-6-1-9 2-3 1-2 1-2 4-2 5-3 2-2-6-2 0-3-1-2 1-2 0-3 0 67-4-5 1-4-2-5 0-5-2-5 2-5-7-4 8-5-2-5 1-5 1-4 4-5 1-5-2-5 0 67 3"/><path class="p7" d="M1624 1030l-2 2-2-1-3 0-2 0-2-1-2-1-2 1 46-5-3 0-3 1-2 0-3-2-2 0-3 0-2-1-3-2"/><path class="p9" d="M1650 1035l-4 2-4-2-30 1-3-2-4 1-3 1-3 3-3-2 22-9-6 5-5-2-6-1-6-1-6 2 68 4-3 1-2-4-3 0"/><path class="p6" d="M1602 1029l-2-2-2-1-3-1-2 4-2-2 67-4-2-1-2-1-3-2-2 2-2 0-53-25-3 5 67-3-20 30-4-1-4 3-4 1-4 2-4-2-4-2-4-1-4-2-4 2-4 1-5 2-4-1 67 0-5-3-5-1-5-1-5-2-5 3-5 1-19 11-3-2-2-5-2-4-2 6-2-13-2 1 63 10-3 0-4-2-47-10-4 17-5 4 52-12-3-4-3 6-2 8-3-6-3-5-3 2-19 2-3 3 26-9-2 0-3 2-2 0-2 0-2 0-3 1-2-3 33 16-6 0-6 3-5-2-6-5-6-8-6 3-5-1-6-12-6 2 26 4"/><path class="p5" d="M1592 1023l66-1-5 0-4-2-5-1-5 3-5 2-5-1"/></g></g><clipPath id="kc40"><rect x="764" y="1112" width="127" height="127"/></clipPath><g transform="scale(.5)"><g clip-path="url(#kc40)"><path class="p7" d="M859 1214l0 9 1 0 0-1 0 3 0 0"/><path class="p3" d="M841 1201l0-3 0 2 0-1 0-3 0 0-1 3 0 1 0-1 0 1 0-1 24-7-55 19 0 0 0 3 1-6 0 2 0-3 0 0 0 2 0 4 0 0 1-5 0 0 0-6 0 4 0 0 0 1 1 1 0 0 0 1 0-1 16-1 0 0-1-2 0 0 0 1 0 0 0-4 0 0-1-1 0 1 0-1 0 2 0 3 0 1 0 1-1 0 0 0 0-4 0-2 0 0 6 4 7-11 0 4 0-1 0 1 0-3 0 0-16 2 0-2 0-1 0-4 1-2 0-2 0 0 0 2 17 33 16-16 0-4 0 3 0-2 0 0 0 0-1 3 6-3 0-1-30-4 0 3 0 1 0-1 0-1 0-3 0-1-1 2 0 3 0 3 0-1 0 0"/><path class="p2" d="M820 1211l0-1 24-2 0 0 17 2 0 0 0 0 0 0 0-2 0 1-1-2 0 0 0 1-52 11 1 5 0 4 0-3 0-2 0 1 0 1 0 0 1-3 0 1 0 1 0-5 0-1 0 5 22-13-1 0 0 1 0 1 0 0 0-1 0-1-39-65 59 56 0 2 0-1-1 2 0 0 0 3 0 2 0 2 0 0 0-3-1 0 0 3 0 1 0-1 0 1 0 0-1 2 0-2 0 0 0 2 12 3-1-4-18-10 0 1 0 3 0 1-1 6 0 1 0 0 0 7 0 1 0 0 0 5-1 1 0 1 0-1 0 3 0-6 0-5-1-7 0 3 0-1-3-2 0-4 0-2 0-5-1 7 0-4 0 0 0-6 0-2 0 0 0 5-1-3 0 1 0 1 0-7 0 10 0 0-1 7-14 7 0 5 0-4 0-8 0 2 0-5 1-5 0 2 0 3 0-3 0 0 0-2 1 1 0 4 0 0 0-5 9 0 1-1 0 1"/><path class="p9" d="M857 1221l0 1 0 1 0 1"/><path class="p8" d="M865 1219l0 2 0 1 0 3-60 7 0-1 0-1 0-3 0 1-1-2 51-2 0-1 0 0 0-1 1 0 0-2 0 1 0 0 0-2 0 0"/><path class="p6" d="M862 1221l0 9-28 2 0-2 13 2 0 0 0-2 0-1 0-1 0 0 0 0 1-3 0 7 0-8 0-3 0-2 0 0 0 2 1 0 4 1 0 1 0-1 0 0 0-1 0 0 0-1 1 0 0-1 0 2 0-1 0 1 0-1 0 2 17-4 0 0 0 4-1-2 0-5 0-2 0 4 0 3-14 11 0-4-22-12 1 1 0 5 0-5 0 1 0-5 0 1 0 1 1 2 0 5 0 0 0-2 0 1"/><path class="p5" d="M845 1223l0-1-3 2 0 4 0 0 0-2 0 3 0-1 1 2 0 2-12-14 0 0 0 0 0 0 0 2 1 1 0 0 0 0 0 0 0 0 0-2 1 1 0 0 0 0 0-1 0 1 0 7 0-5 1 0 0 0 18 1 0 0 0 1 0 0 0 0-1 0 0 0 0 0 0-2 0 0 0-2 0 0-1 0 0 0 0-1 0-1 0 2-52 5 0-3-1-2 0 1 0-2 0 0 0 1 0 2-1 1 0 3 0 4 0-1 0 0"/><path class="p1" d="M844 1212l1-1 0 1 0-1 0 1 0 1 0-1 0 0 1 1 0-1 0 0 0-1-13-5 0 2 0 0 0-1 0 3 0-1 0 0 1 2 0 0-26-3 0-1 0 1 0 0-1-1 0-1 0 1 0 0 0 1 0 2 0 1-1 0 0-2 0 0 0 0 0 1 0-1 0 1-1-2 0 1-3 0 16 0 0 0 0 1 1-1 0-1 0 2-7 1 1-4 0 5-19-6 14 7 0 0 0-1"/><path class="p1" d="M808 1207l0 0 0 0 0 1 0 2-3 5 0 0 0 0 0 1 34-2 0 0 1-1 0 0 0 0 0 1 0 0 0 2 0-1 1 1 0 0 0 1 0-1"/><path class="p7" d="M808 1230h0"/><path class="p8" d="M829 1227l0 1-1-1 0 1 0 0 0 0 0 0 0-1 0 1-1-1 8-6 1 0 0 2 0 0 0 0 0 0 0 0 1 1 0 1 0 1 0-2 0-1 0 0 1-1 1 1 0 2 0-2 0 1 0 1 0-3 1 4 0 2 0-4 0 1 0-1 0-2 23-3 0 5 0 2-18-3 0 0 0 0 1 3 0 0 0-1 0-1 0-3 0 1 1-2 0 1 0-1 0 0 0 0 0 0 0 1 1 2 0 0 0-1 0 0-34 0 0 1 0 0-1 0 0 0 0 1 0-1 0 0 0 1 0 0-1 0"/><path class="p4" d="M839 1213l0 0-1 3 0-3 0 0 0-1 0-1 0-1-1 3 0 0 0-2 0-3 0 0-13 8 0-1-1 2 0 1 0 1 0 2 0-1 0-3 0 3-1 0 0-1 0 2 0-2 0-1 0 1 0-3-1-1 0-3 0 0 0 1-5 2 0 1 0 3 1-2 0 1 0 2 0-3 0 1 0-3 0-3 1 0 0 0 0 0 0-1 0 2 0-2"/><path class="p6" d="M818 1219l0 0-1 1-1 1 0 0 0 0 0 0 0 0 0-1 0 1 35 6 0-1 0 1 0 2-1-3 0 0 0 2 0 4 0 1 0-1 13-10 0 0 0 0 0 0-33 3 0-3 0 0 0 4 0-7 1-2"/><path class="p5" d="M841 1225l0-1-1-1 19-8 0 0 0 2 0-4 0 2 0-2 0 5 1 5 0-1 0-3 0 3 0-1 0 5 1-8 0-1 0-2-18 16 0 0 0 0-1 0 0-4 0 1 0 4 0 0 0 0-1-4 0-2"/><path class="p2" d="M834 1212l0-2 15 4 0-1 0 0 0-2 1-1 0 1 0 1 0 1 0-1 0 0 1 0 0-1-62-72 62 71 0 0 0-1 0 2 1 0 0-1 0-2-23 1-38-74 38 76 0 0-1-1 0 0 0 7 0 0 0-3 0 5-1 1 0-3 0-1 0 6 0 1 0 1-1-4 0-4 0 3 0 6 0-2 0-2 0-2-32-97 31 91 0 1 21 4 0-1 0-3 0 4-1 2 0-3 0-7 0-10 0-1 0 4-27 29 11-19 0 0 0 1 0-2 1 2 0 1 0-1 0 1 0-1 0-1 0 1 1 1 0 0 0 2 0-1 0-2 0-1 1 0-41-88 41 87-9 2 0 1 0 0 1-1 0 2 0-2 0 2 7-8 0 8 28-2 0 0 0 6 0 1-69-84 68 81 0 2 0-1-8 1 0 1 0-7 0-5 0 0 0-3 0-3 1-7 0 7 0 10 0-1 0 6"/><path class="p3" d="M830 1201l9 4 0 0 0 2 0-1 0 1 0-4-1 3 0-1 0-2 21-27 0-9-21 16 0 8 0 1 0-11 0 6 0 13 1-3 0-3 0-9-6 29 0-6 0 3 0 4 0 10-1-13 0 9 0-6 0 4 0 0 0-5 0 3-1 1 0 5 0-2 0 2 0-13 0-2-1 10 0 9 24-3 0 3-7-24 0 0 0 0 0-2 0 1 1-2 0 5 0 2"/><path class="p9" d="M864 1215l0 1-1-1 0 1 0-1 0 0 0 0 0-1-3 5 0 0 1-1 0 0 0 0 0 0 0 0 0 0 0 0 1 1 0 0 0-1 0 0 0 1-57-4 0 0-1 1 0-1 0-2 0 0 0 2 0-1 0 2 54 5 0 4 0-1 0 1-1 0 0-1 0-1 0 4 0-2 0-1 0-3-1 3"/><path class="p7" d="M853 1224l0-2 0-4 0 2 0 1 0 0 1-3 0 2 0-3 0 1 0 1 0 0 1 4 0 2 0 0 0-1 0-3 0-2 0-6 1 2-10 2 11 8-1-1 0 1"/><path class="p3" d="M861 1206l1-2 0 1 0 0 0 0 0 2 0 2 1-2 0-1 0-1 0-5 0-5 0 0 0 2 1 0-11 1 0 0 0-5 0 2-1 0 0 3-2-1-21 5 0 0 1 4 0 3 0 1 0 1 0 0 0-1 21 3 0-2 0-1 0-1 0-3-1 2 0-1 0 1 0 0-4-14 0 0 0-7 0-2 0 4 0 3 1 3 0 0 0 3 0 13 0-12 0 1 0 8 1 2 0-11 0-13 0-11 0 1 0 5 0 11-13 1 0-8 0-2 0-6-1 9 0-1 0 0 0-4 0 14 0 8 0 5-1 0 0-15 0 7 0-3 0 10 0-6 0-4-1 8 0 2 22-5 0 12 0 1 0 5 0-7 1-5 0-6 0-4 0 12 0-7 0 9 0 5 1 6 0-6 0-3-24-5 0 0 0-1 0 0 0 2 0 0 0 2 1 0 0-1 0 3 0 2 0-4 0 4 0-5 1-7 0-1 0 0 0 2 0 3"/><path class="p4" d="M818 1204l0 4 30 14 1 0 0-1 0 0 0-2 0 3 0 0 1-1 0-1 0 0-31-14 0 1 0-5 0 1 1 6"/><path class="p9" d="M856 1221l-25-3 0 1 0 1 0-1 0 0-1 0 0 0 0 1 0-1 0 0 0 0 31 5 0 0 0 2"/><path class="p8" d="M856 1222l1 0 0 2 0-2 0 2 0 0 0 0-52 0 0 0 0 0 0 0 0-2-1 0 0 0 0 0 0 0 0 0 0 0 29 0 0-1 0 1 6 1 0 1 0-2 1 3-6 1 0-4 0-1 0 2 0-2 1 1 0 1 0-2 0 0 0 0 0 0 0 0 1 3 0 0"/><path class="p1" d="M833 1217l-1 0 0 0 0-1 0 0 0 0 0 0 0 0-1-1 0-2 0 1 0 0 0 1 0 0-1 0 0 0 0-1 0 0 0 0 0 0-26-1 0 0 0 0 0 1"/><path class="p2" d="M841 1216l0 1 0 1 0-1-1-2 0-1 0 0 0 0 0-2 0 0 0-2-1 1 0 0 0 1 0-1 0 2 0-2 0 2-1 1 0 0-36-1 0 0-4-93 4 88 46 2 0 1 0 0 1 3 0 1 0-2 0 0 0 0 0 1 1-3 0 0 0 1 0 1 0-2 0 0 0 1 1-1 0 0 0 1 0-2-11 0 0-1 1 2 0 1 0-1 0-1-25 0 0 2 0-3 0 0 0 1-6 7 1-2 0-1 0-2 0 0 0-1 0 2 0 1 1 1 0-2 0 0 0-2 0-2 0 0 0 1 1-1 0 1 0 0 7-3 0 1 0 0 0-1 0 0-1 2 0 0 0 1 0-2-27-55 27 53-1 1 0 1 0 0 0 0"/><path class="p5" d="M798 1221l0 1 0-1 0 1 0 1 0 1-1 0 0 0 0-2 31 0 0 1-9 0"/><path class="p6" d="M845 1223l0-1 1 0 0-2 0 2 0 2 0-1 0-1 1 0 0-1 0 0 0 0 13 0 0 0 0 0-1 0-13 2 0 0-1-1 0 0-10 1 0 1 0-1 0-1 0 0 0 0 0-1 1 1 0 2 0 4 0-4 8-6 0 0 0-1 0 1-1 6 0 3 0 4 0 0 0-3 0 4-1-1 0 0 0 1 0-5 0 3 0-2 0-3-1 1 8-4 0-1 0 0 0-1 0 1 0 0 1 2 0 0 0 0 0 1 0 0 0-2 1 0 0-1 0 1 0-1 0 0 0 1 0 0 1 0-39 0 0 1 1 0"/><path class="p3" d="M834 1207l-7-6 0-1 0 1 1 1 0 0 0 2 0-4 0-1 0 1 1 5 0-1 0 0-11 11 0-1 0 2 0-4-29-94 54 80-13 5 0 0 0 3 1 1 0 4 0-2 0 1 0-1-8-9 0-3 0-4-1 3 0 10 0-7 0-1 0-1 0-6 0 2-1-10 0-10 0 2 0 6 0-2 0 4 0 12-1-9 0 2 0 11 24 3 0-19-17 24 0-10"/><path class="p8" d="M811 1225l0 0 1 0 0 1 0 1 0 1 0-2 0-2 29 0 0-1 0-1 0 0 0 2 0 0 1-2 0 0 0 0 0 1 20-5 0-4 0 3-1-3-29 1 0 0 0 11 0 3 1-5 0 1 0 2 0 3 0-4 0 2 0 0 1 0 0 3 0 0 0-4 0-1 0 2 0 1 1 2 0-3 12 2 0 3 0-3 0 0 0 1 0-1 1-5 0 0 0 4 0 0 0-1 0-5 0 0 1 4 0 0-13-4-1-1 0 1 0-1 0 1 0 0 0 1 0-1-10 4 1-11 0 0 0 2 0-2 0 11 0-10 0 4 1-1 0 3 0 0 37-5 0 1-33 5 0 0 0 0 0-4 1 3 0 1 0 0 0 0 0 0 0 0 1 0 10 5 0-1 0 2 0 0-1 1 0-3 0-1 0 0 0 1 0 0 0 0-1 0 0 0 0 1 0 0 0-1 0 1-1-1 0-6 0 6-2 0 0 0 0-1 0 0 0 1-1-1 0-1 0 0"/><path class="p2" d="M838 1208l0 2 0-2 0 0-1 0 0-2 0 2 0 2 10 3 0-1 0 0 1 2 0 0 0 3 0 1 0-1 0 1 0 1 1 0 0 0 0 0 0-2 0 1 0-1-23-5 0 0 21 0-7-5 0 0 0-1-43-63 43 65-1-1 0 1 0 0 0-1 9 1 0-1-28 20 0-3 0-8 0-7 0-6 0 5 0-1-1-4 0 6 0 4 10-13 0 1-1 2 0 0 0-4 0-2-1 27 0 1 0 4 0-5 0 1-1 7 0-2"/><path class="p1" d="M834 1211l0 1 0-1 0 0-1 1 0-1 0 0 0 0 0 0 0-1-1 1 0 0 3 1 0 1-46-3 0 1 0 3 0-1-1 0 0 1 0 0 0-1 0 0 0 2 0-2-1 2 0 2 0 1 0-1"/><path class="p7" d="M801 1220l1 0 0 1 0 1 0 1 0 1 0 2 1 0 10-2 0 0 0 0 0 1 0 0 0 1-1 0 0 1 0-1"/><path class="p9" d="M825 1228l0-1 0-6-12 2 0 0 0 1-1 0 0-3 0-1 45-11 0-1 0 0 0-2-1 2 0-1 0-1 0 2 0-1 0 3"/><path class="p5" d="M833 1221l0 1 1 0 0-1 0-1 0 0 0 0 0 1"/><path class="p4" d="M830 1225l0 1 0 3 0-10 0 0 1 3 0-10 0 8 0 5 0-3 0 2 1 0 0 3 0 2 0-4 0 3 0-2 0 3 15-19 1-2 0 1 0-2 0-1 0-2-41 10 0 9"/><path class="p6" d="M837 1222l0 0 0-1 0 1 0 0 0 0 0-1 1 0 0 0 0 0 0 1 0-2-3 7-1-1 0-4-28 1 0 0 0 0 0 0 0-1 0 0 0-1-1 1 0-1 0 0 0 0 0 0 0 0-1-2 0 3 0-1 0 0 0 1 0 0 0 0 58 2 0-5 0-3 0-3 0 3 0-1 1 3-13 2-1 1 0-2 5 4 0-1 0 1-26 2 0 0-1-1 0 1 0-2 0 0 0-3 13 2 0 2 6-1 0 0 1-1 0 0 0 0 0 0 0 1 0 0-23 1 0 0 0-1 0 4-1-2 0-1 0 4 0-1 0-3 0 2-6-3"/></g></g><clipPath id="kc41"><rect x="897" y="1112" width="127" height="127"/></clipPath><g transform="scale(.5)"><g clip-path="url(#kc41)"><path class="p7" d="M931 1214l-5 9-1 0 0-1-1 3 0 0"/><path class="p1" d="M934 1212l-1-1 1 1-1-1 0 1 0 1 0-1 1 0 1 1-1-1 2 0-1-1 4-5-1 2 0 0-2-1 2 3 0-1 3 0 0 2 0 0-3-3 0-1 0 1-1 0-1-1 1-1 0 1 0 0 0 1 0 2-1 1-1 0 0-2-1 0 0 0 0 1 0-1 1 1-1-2 0 1 1 0-2 0 0 0 1 1-1-1 1-1 0 2 2 1 1-4-5 5 1-6 5 7-1 0 0-1"/><path class="p8" d="M933 1219l-1 2 2 1-2 3-7 7-2-1-2-1 1-3-2 1 0-2 2-2-1-1 2 0 0-1 1 0 0-2 0 1 1 0 1-2 0 0"/><path class="p9" d="M922 1221l0 1-1 1 1 1"/><path class="p6" d="M923 1221l2 9 2 2 0-2-5 2-2 0-2-2 1-1 2-1 5 0 5 0 40-3-42 7-8-8 3-3-3-2-3 0 0 2 5 0 5 1 3 1-1-1 0 0 0-1-2 0-1-1 1 0 0-1 0 2 0-1 0 1-1-1 1 2-7-4-2 0 0 4 0-2-2-5 10-2-6 4 0 3 2 11 0-4 14-12-2 1-8 5 1-5-1 1-2-5-5 1 3 1 3 2 0 5-2 0 5-2-2 1"/><path class="p2" d="M937 1211l-1-1 2-2-1 0-4 2-1 0 1 0 0 0 1-2 0 1 0-2 0 0 0 1 4 11 1 5-3 4-1-3 2-2-1 1 2 1 1 0 2-3-2 1 2 1-1-5-1-1 1 5-8-13 0 0 1 1 1 1-1 0-1-1 0-1 8-65-9 56 0 2 0-1 0 2-1 0 0 3 1 2 0 2 0 0 1-3 0 0 0 3 1 1 0-1 1 1-1 0 0 2-1-2 1 0-1 2 4 3 0-4-12-10 2 1 1 3 1 1 4 6 0 1 2 0 0 7 1 1 0 0 2 5-2 1 2 1-3-1-1 3 2-6 2-5-1-7-3 3-1-1 4-2 0-4-3-2 1-5-2 7 0-4-2 0-3-6-2-2 0 0 0 5 1-3 1 1 0 1 1-7-2 10-1 0 0 7 6 7-2 5-2-4 4-8 1 2-2-5 4-5-2 2 0 3 3-3 0 0-3-2-1 1-1 4 0 0 3-5 7 0 3-1 0 1"/><path class="p3" d="M931 1201l1-3-1 2 1-1 0-3-1 0 1 3 0 1 1-1-1 1-1-1 2-7 0 19-1 0 1 3 0-6 0 2 0-3-1 0 1 2-1 4 0 0 2-5 0 0 0-6 0 4 0 0 0 1-1 1 0 0 0 1 0-1-1-1 0 0 0-2 0 0-1 1 0 0-1-4 0 0 0-1 1 1 0-1 0 2 2 3 0 1-1 1 0 0-1 0-1-4 1-2 0 0-1 4 2-11 0 4 0-1 0 1 0-3-1 0 1 2 0-2 0-1 1-4 0-2 0-2-1 0 0 2 5 33-3-16 0-4 0 3-1-2 0 0 0 0 0 3-1-3 1-1-1-4 1 3 0 1-1-1-1-1 1-3 0-1 1 2 0 3-1 3 0-1 0 0"/><path class="p5" d="M932 1223l12-1-7 2 29 4-28 0 0-2 1 3-2-1-3 2 3 2-2-14 0 0 0 0-1 0-2 2 1 1 0 0-1 0 2 0-1 0 0-2 1 1-1 0 0 0-2-1 1 1 27 7-27-5-2 0 1 0 0 1 0 0 2 1 0 0 2 0-4 0 2 0 40 0-39-2-2 0 3-2-1 0 0 0 1 0-1-1 1-1 0 2-17 5 1-3-1-2 2 1-1-2 0 0 6 1 5 2-3 1 1 3 0 4 1-1 2 0"/><path class="p5" d="M932 1225l0-1-3-1 26-8-3 0-1 2-7-4 3 2-2-2 1 5 47 5-55-1-1-3-6 3 7-1 15 5-20-8 1-1-11-2-5 16 6 0-3 0 7 0-4-4 0 1 0 4-2 0 8 0 0-4-3-2"/><path class="p9" d="M922 1215l0 1 0-1-1 1 0-1 0 0 0 0 0-1 2 5 0 0 0-1 1 0 0 0 0 0 0 0 0 0 0 0 0 1-1 0 0-1 0 0 0 1-2-4 2 0-1 1 1-1-1-2-1 0 0 2 0-1 0 2-1 5 1 4-1-1 1 1 0 0-2-1 1-1 0 4 2-2 1-1 1-3 1 3"/><path class="p4" d="M938 1213l-2 0-2 3 0-3-1 0 1-1 0-1-1-1 1 3 1 0-2-2 2-3 1 0-3 8 0-1 0 2 0 1-1 1-1 2 0-1 2-3-1 3 1 0 0-1 1 2-2-2 0-1-1 1-1-3-2-1 1-3-1 0 1 1 2 2 2 1 0 3-1-2-1 1 3 2 0-3-1 1 2-3 1-3-2 0-1 0 0 0 1-1-1 2 1-2"/><path class="p8" d="M923 1227l0 1-1-1 0 1 1 0 1 0 1 0 0-1 0 1 0-1-1-6-1 0-1 2 1 0 0 0 1 0 0 0 0 1 0 1 0 1 0-2 0-1 0 0 4-1-2 1 1 2-4-2 1 1 0 1-1-3-2 4 1 2 2-4-1 1 3-1-3-2-1-3-3 5 0 2 5-3 1 0 0 0-1 3 0 0 0-1 1-1-1-3 1 1 1-2 0 1 0-1 0 0 0 0 0 0 1 1 0 2 0 0-2-1 1 0 0 0-1 1 0 0-1 0 0 0 0 1 0-1 1 0-2 1 0 0 1 0"/><path class="p6" d="M925 1219l-1 0 6 1 1 1 0 0 1 0-3 0-1 0 2-1 1 1-6 6-1-1 0 1 6 2 2-3 12 0 3 2-7 4-2 1-3-1-5-10 3 0 0 0-1 0 22 3-11-3 49 0-40 4-1-7-1-2"/><path class="p3" d="M931 1201l1 4-2 0 1 2-1-1 1 1 1-4-1 3 0-1 0-2 1-27 0-9 3 16 1 8-1 1 3-11 0 6 1 13-4-3 0-3 2-9-4 29 0-6-1 3 3 4 0 10-3-13 3 9 2-6-5 4 1 0 0-5-1 3-1 1 1 5 1-2 4 2 0-13-1-2 0 10-1 9 1-3-1 3-2-24-1 0 1 0 0-2 0 1 0-2-1 5 1 2"/><path class="p1" d="M940 1207l-2 0 0 0 4 1-1 2-4 5 2 0 0 0 0 1-6-2 0 0 1-1-1 0 2 0 0 1 1 0 0 2-2-1 0 1 1 0 0 1 0-1"/><path class="p7" d="M924 1230h0"/><path class="p2" d="M934 1212l0-2-1 4 0-1 0 0-1-2 1-1-1 1 0 1 0 1 0-1 0 0 1 0 0-1 7-72-7 71-1 0 0-1-1 2 0 0 1-1 0-2-1 1 13-74-11 76 0 0 0-1 0 0 10 7-1 0-1-3-1 5-1 1 5-3 3-1 2 6-1 1 0 1-3-4 0-4-1 3 0 6 0-2 2-2 0-2-8-97 9 91 0 1 1 4-2-1-3-3-2 4 1 2 0-3 3-7-3-10 0-1-2 4-5 29-3-19 0 0 1 1 0-2-1 2 1 1 0-1 0 1 0-1 0-1 0 1-1 1 1 0 1 2 0-1 0-2 1-1-1 0 4-88-6 87 0 2 0 1 0 0 2-1 0 2-1-2 0 2 1-8-1 8 1-2 1 0-3 6 3 1 6-84-5 81 1 2 0-1-5 1 1 1 0-7 2-5 2 0-3-3-1-3 1-7-4 7 0 10-1-1-2 6"/><path class="p7" d="M922 1224l0-2 0-4 1 2 0 1 0 0 2-3-1 2-2-3 1 1 0 1-2 0-1 4-2 2 1 0 3-1-1-3-1-2 3-6-1 2-1 2 4 8-1-1 0 1"/><path class="p3" d="M933 1206l-2-2 0 1 1 0 0 0 0 2 0 2 1-2 0-1 0-1 0-5 0-5-1 0 1 2 0 0-1 1 0 0-1-5-1 2 0 0 0 3 2-1 1 5 0 0 1 4-1 3 0 1 0 1 0 0 1-1-3 3 1-2-1-1 1-1-1-3 0 2 0-1-1 1 1 0 0-14-2 0 1-7-1-2 2 4 2 3-1 3-3 0-1 3-1 13-1-12 1 1 0 8 0 2 0-11-1-13-2-11 4 1-1 5-2 11-1 1 4-8 0-2 0-6 3 9-1-1 2 0 1-4 0 14-3 8 3 5-1 0 0-15-1 7 0-3-1 10 0-6 0-4 2 8 3 2 0-5 1 12 4 1 0 5-1-7-2-5-1-6 1-4-2 12 1-7 2 9-2 5-1 6 0-6 0-3-2-5 1 0-1-1-1 0-1 2 0 0-1 2 0 0 1-1 1 3-1 2-1-4 1 4 0-5-2-7 1-1 0 0 0 2 1 3"/><path class="p9" d="M925 1221l-4-3 0 1 1 1 1-1 0 0 0 0 0 0 1 1-1-1 1 0-1 0-2 5 1 0-1 2"/><path class="p6" d="M929 1223l1-1 1 0 0-2 0 2 52 2-53-1-2-1 1 0-1-1 1 0 0 0-2 0-2 0 2 0-3 0 11 2-1 0-1-1-2 0-1 1 0 1 1-1 0-1-1 0 0 0 1-1 0 1-2 2 22 4-20-4-6-6 4 0-4-1-2 1-2 6 5 3 7 4 1 0-3-3-10 4-3-1 4 0-4 1 1-5 2 3-1-2 1-3 4 1 5-4-2-1-1 0 0-1 0 1 0 0-1 2 2 0-3 0-1 1 2 0 1-2 0 0-1-1 4 1 0-1 3 0 0 1 0 0 0 0 1 0 2 1-3 0"/><path class="p4" d="M933 1204l-2 4 11 14-1 0-3-1 1 0-1-2 0 3-1 0 1-1 0-1-1 0-18-14-2 1 5-5-1 1-4 6"/><path class="p5" d="M929 1221l2 1 0-1 1 1-1 1 1 1 2 0 2 0 1-2-3 0-2 1 1 0"/><path class="p8" d="M925 1222l0 0 0 2-1-2 1 2-1 0 0 0-1 0 0 0 0 0 0 0 1-2 0 0 0 0 0 0 0 0 0 0 0 0-1 0 0-1-1 1 1 1-1 1-1-2 3 3 21 1-22-4-2-1 0 2 0-2 0 1 0 1-1-2 1 0 0 0 1 0 0 0 1 3 1 0"/><path class="p2" d="M934 1216l-1 1 1 1 0-1 0-2 0-1 0 0 1 0 0-2-1 0-1-2 0 1 0 0 0 1 1-1-1 2-1-2 1 2 0 1 0 0 0-1 1 0 6-93-5 88-2 2 0 1 1 0 0 3 0 1-1-2-1 0 1 0-1 1 1-3 0 0 0 1 0 1 2-2 0 0 0 1-1-1 0 0 0 1 0-2 0 0 0-1-2 2 1 1 0-1 0-1 0 0 0 2-1-3 0 0 1 1-2 7 0-2 1-1 0-2-1 0 0-1 0 2-1 1-1 1 1-2 1 0-2-2 0-2 0 0 0 1 0-1 0 1 0 0 2-3 0 1 0 0 2-1 1 0 0 2-1 0-1 1 0-2 9-55-10 53 1 1 0 1 0 0 0 0"/><path class="p1" d="M935 1217l-1 0 0 0 0-1 0 0 0 0 0 0 0 0 0-1 0-2 0 1 0 0 0 1 0 0 1 0-2 0 1-1 0 0 0 0 1 0 0-1-1 0 0 0 0 1"/><path class="p4" d="M948 1225l3 1-1 3-2-10 4 0 5 3-1-10-7 8-5 5-4-3-2 2 4 0 5 3 4 2 1-4-2 3-7-2-5 3-1-19 0-2 1 1-1-2-1-1 0-2 0 10 10 9"/><path class="p2" d="M932 1208l1 2 0-2 1 0 1 0-1-2 1 2 0 2-2 3 0-1-2 0 3 2 0 0-1 3 1 1-1-1 1 1 0 1-1 0 1 0 1 0-1-2-1 1 0-1 1-5 0 0-3 0 0-5 1 0 1-1 11-63-12 65 1-1-1 1 1 0 0-1 3 1 1-1 9 20 0-3-2-8 1-7-6-6-2 5 1-1-3-4 0 6-2 4-1-13-1 1 1 2 0 0 2-4 1-2 0 27-2 1 1 4 0-5 0 1-2 7-2-2"/><path class="p3" d="M931 1207l-1-6 0-1 1 1 0 1-1 0 0 2 0-4-1-1 1 1 0 5 0-1-1 0 3 11 0-1 0 2-2-4 9-94-7 80 4 5 0 0-1 3 0 1-1 4 0-2 1 1 0-1-7-9-1-3 3-4-1 3-2 10-1-7 0-1 0-1 2-6 1 2 2-10 5-10 3 2-1 6 1-2 0 4 0 12 2-9-2 2 0 11-2 3-4-19 5 24-1-10"/><path class="p5" d="M933 1221l1 1 1 0 0-1-1-1 0 0-2 0 0 1"/><path class="p1" d="M938 1211l-1 1 0-1-1 0-1 1 1-1 0 0 0 0 0 0 0-1-2 1 1 0 0 1-1 1 5-3 0 1-2 3-5-1 1 0 1 1 3 0 0-1-3 0 2 2 0-2 1 2 3 2-2 1 0-1"/><path class="p6" d="M928 1222l-1 0 1-1 0 1-1 0 3 0 0-1 2 0-1 0 1 0 1 1 0-2-8 7-8-1 1-4 9 1-2 0 2 0 0 0 2-1 2 0-1-1-1 1-1-1-1 0 0 0 0 0 3 0-1-2 1 3-2-1-1 0 0 1 1 0 0 0-2 2-4-5-5-3 3-3 1 3-2-1 1 3 7 2-1 1-2-2 37 4-37-1-4 1 0 2 4 0 3-1-3 1-3-2-1 0 3-3 10 2-1 2-1-1-2 0 1-1-1 0 0 0-1 0 3 1 0 0 9 1 3 0-2-1 5 4-1-2 2-1-3 4 1-1 5-3-2 2-12-3"/><path class="p8" d="M926 1225l-1 0 0 0 1 1 0 1-1 1 0-2 0-2-1 0 0-1 0-1 1 0-1 2 1 0-1-2-1 0 0 0 0 1 3-5 2-4-2 3 0-3-6 1-3 0 66 11-35 3-27-5 2 1 1 2 4 3 25-4-25 2-3 0 0 0 0 3-1 0-1-4-1-1-1 2-1 1 0 2 0-3 2 2 1 3-2-3 0 0 0 1-2-1 3-5 5 0 1 4-2 0 1-1-1-5-1 0-1 4-2 0-2-4 0-1 1 1 0-1 1 1 0 0 0 1 0-1 22 4-23-11 0 0-1 2-2-2 28 11-28-10 0 4-1-1 1 3 1 0 2-5 3 1 12 5 51 0-55 0-1-4-6 3-1 1-1 0-1 0 0 0-1 0 1 0 3 5 0-1-1 2 1 0 0 1 0-3-1-1 1 0 0 1 0 0 0 0-1 0 1 0 0 1 0 0 0-1 1 1 0-1 21-6-22 6-1 0 0 0 1-1 0 0-1 1-1-1 1-1 0 0"/><path class="p7" d="M924 1220l0 0 1 1 0 1 0 1-1 1 0 2-1 0 3-2 0 0 0 0-1 1-1 0 1 1 0 0 0 1 2-1"/><path class="p9" d="M919 1228l-1-1 0-6 7 2 0 0 0 1 1 0 3-3-2-1-9-11 2-1-2 0 0-2 2 2 1-1-1-1 0 2-1-1 1 3"/></g></g><clipPath id="kc42"><rect x="1030" y="1112" width="127" height="127"/></clipPath><g transform="scale(.5)"><g clip-path="url(#kc42)"><path class="p8" d="M1117 1219l3 2-13 1-2 3-2 7-3-1 19-1-13-3-4 1-16-2 13-2 3-1 1 0-1-1-4 0-6-2-3 1 2 0 1-2 1 0"/><path class="p2" d="M1090 1211l-2-1-25-2 3 0 16 2-1 0-1 0 1 0 2-2-3 1-2-2 1 0 0 1-11 11-5 5 8 4-12-3-1-2 5 1-1 1 9 0 2-3 0 1-3 1-5-5-8-1 4 5 16-13 3 0-2 1-1 1 3 0 2-1 2-1 1-65-3 56 0 2-1-1-3 2 0 0-1 3 0 2 0 2 2 0-2-3 1 0-1 3 0 1-3-1 1 1 0 0 1 2-1-2-2 0-1 2-1 3-2-4 20-10-11 1-1 3-7 1 1 6 10 1 0 0-2 7 5 1 3 0-11 5-8 1 10 1 0-1 3 3 3-6-4-5-7-7-2 3-2-1-1-2-1-4 6-2 8-5 1 7 1-4 0 0 0-6 3-2 0 0 1 5-5-3-1 1 3 1 5-7 0 10-6 0-3 7 12 7 9 5-6-4-1-8-1 2-2-5 1-5-4 2 3 3 0-3 0 0 3-2-3 1 5 4 0 0-2-5-7 0 0-1-3 1"/><path class="p1" d="M1069 1212l0-1-2 1 2-1 2 1 2 1-2-1-1 0 3 1 0-1 2 0-1-1 11-5 5 2-1 0-4-1-2 3-8-1-4 0 0 2 9 0-15-3 1-1-4 1-1 0 2-1-1-1 1 1 0 0-2 1 0 2 1 1 3 0 2-2-1 0-2 0 0 1 1-1 1 1 0-2 0 1 1 0 0 0 1 0 2 1-1-1 0-1 0 2-12 1 4-4-12 5 34-6-11 7 0 0-3-1"/><path class="p6" d="M1119 1221l6 9-20 2-5-2-4 2-4 0-2-2 3-1-6-1 14 0-7 0 3-3-4 7-8-8 0-3 9-2 11 0 5 2-10 0 0 1 3 1 6-1 0 0 2-1 2 0 2-1-2 0 0-1 0 2 0-1-2 1 1-1 1 2 10-4 1 0-1 4 12-2-3-5-2-2 1 4 1 3-3 11 1-4-20-12-1 1 0 5 3-5 10 1-4-5-6 1-2 1 8 2-3 5-8 0 2-2 12 1"/><path class="p5" d="M1100 1223l-12-1 8 2-11 4 18 0 4-2-7 3 4-1-11 2 2 2 14-14 2 0 2 0-1 0-2 2-3 1-4 0 0 0-1 0 0 0 3-2 0 1-4 0 5 0 1-1-1 1-9 7 10-5-2 0-1 0-2 1-1 0 0 1-2 0 0 0 3 0 1 0-16 0 15-2-2 0 2-2 0 0 2 0 2 0 2-1 2-1-3 2 23 5-2-3-3-2-7 1 1-2 10 0 10 1-6 2 5 1-5 3-3 4-8-1 6 0"/><path class="p3" d="M1084 1201l0-3 2 2-2-1 2-3 0 0-1 3-2 1 2-1-2 1 1-1 11-7-17 19-2 0 3 3 0-6 1 2-1-3-2 0 0 2 2 4 0 0 1-5-1 0 1-6 2 4 2 0 3 1-2 1 0 0-1 1 1-1 1-1-3 0 0-2 0 0 1 1-2 0 2-4-2 0 1-1 3 1-2-1-1 2-1 3-1 1 1 1 0 0-1 0-2-4 0-2-1 0 1 4 5-11 1 4 0-1 1 1-3-3 0 0 8 2 0-2 0-1-2-4-4-2 2-2 1 0-1 2-19 33 29-16 0-4-1 3-1-2-1 0-3 0 3 3-6-3 3-1-4-4 2 3 1 1 2-1 0-1-2-3 2-1 1 2-1 3-1 3 0-1 1 0"/><path class="p7" d="M1121 1214l-12 9 2 0 0-1-3 3 2 0"/><path class="p9" d="M1079 1221l14 1-19 1-1 1"/><path class="p7" d="M1098 1230h0"/><path class="p3" d="M1093 1201l-9 4 2 0-1 2 3-1-2 1 1-4-1 3-4-1 1-2 18-27 11-9 2 16 2 8-4 1-6-11 5 6 1 13 5-3-6-3 1-9-32 29-5-6-2 3-2 4 2 10-1-13-2 9 3-6 6 4 8 0-7-5 4 3 3 1 3 5-3-2 1 2 8-13-6-2-4 10 4 9 0-3-3 3-4-24 1 0 1 0 0-2 0 1 0-2 3 5-1 2"/><path class="p6" d="M1124 1219l-2 0-6 1 1 1 3 0-1 0-2 0 1 0-2-1 2 1 13 6 3-1 1 1-4 2 5-3-3 0-5 2 4 4-10 1 6-1-7-10-3 0 1 0-1 0 9 3-6-3-19 0 15 4 2-7 9-2"/><path class="p9" d="M1096 1215l-1 1-1-1-1 1-1-1 0 0 6 0 0-1-17 5-3 0-3-1-1 0 2 0 1 0-7 0 4 0-2 0 1 1 3 0 1-1 1 0-3 1-25-4 9 0-2 1 0-1 6-2 3 0-4 2-3-1 2 2 8 5-3 4-1-1 10 1 9 0-25-1 6-1 10 4-5-2-2-1 6-3 22 3"/><path class="p8" d="M1099 1227l5 1 1-1 5 1-1 0-7 0-4 0-1-1 0 1-1-1-3-6-2 0 2 2 4 0-1 0-7 0 4 0-2 1-2 1 5 1 0-2 0-1 1 0-7-1 14 1 11 2 1-2-18 1 1 1 9-3 4 4 14 2-2-4-7 1-3-1-5-2-1-3 1 5-22 2 17-3-1 0 0 0 3 3-2 0-3-1 0-1-3-3-1 1-1-2 3 1 1-1-4 0-2 0-2 0 0 1-3 2 4 0 2-1 4 0 2 0 6 1-1 0-1 0 1 0 3 1-2-1-4 0 1 1-6 0-1 0"/><path class="p2" d="M1083 1212l1-2-3 4 0-1 3 0-2-2 1-1-1 1 2 1-1 1 0-1 2 0 2 0-1-1 0-72-4 71 1 0 0-1 1 2-1 0-2-1 4-2 1 1 2-74 0 76-4 0 0-1 0 0 25 7 3 0-11-3-6 5 7 1 8-3-10-1 1 6-3 1-9 1 11-4-3-4-5 3 3 6-10-2-6-2-1-2 3-97 1 91 6 1 0 4 1-1 0-3-5 4-5 2-1-3 4-7 9-10-1-1-5 4-18 29 10-19 2 0 1 1 0-2 1 2 0 1 0-1 3 1 0-1 0-1-1 1 4 1 2 0-2 2-2-1 0-2 0-1-1 0-3-88 0 87-3 2 2 1 0 0 0-1 3 2-1-2 3 2-1-8-3 8 3-2-4 0 3 6 0 1 4-84 5 81 7 2-5-1-10 1-4 1-4-7-4-5 9 0 6-3-4-3-6-7-1 7-9 10 8-1 4 6"/><path class="p5" d="M1114 1225l2-1-1-1 9-8 0 0 0 2 3-4-3 2-8-2-8 5-24 5 24-1-1-3 2 3-3-1-10 5 4-8 4-1 3-2-4 16 7 0-1 0 5 0 8-4-6 1 0 4-11 0-1 0-4-4 1-2"/><path class="p4" d="M1093 1213l-3 0-3 3 2-3 2 0 3-1-2-1 0-1-1 3-1 0 3-2 1-3 1 0-2 8-1-1 5 2 3 1-1 1 1 2 0-1-5-3-3 3 2 0 2-1-4 2-2-2-1-1 0 1 1-3 3-1-1-3 1 0-2 1 4 2-1 1 2 3 1-2 1 1 1 2 2-3 1 1 2-3 0-3 0 0-1 0-1 0 0-1-1 2-2-2"/><path class="p1" d="M1090 1207l-6 0 7 0 6 1 2 2-32 5-1 0-1 0 2 1-3-2 0 0 0-1-1 0 0 0 1 1 0 0-1 2-1-1 0 1 0 0 4 1 1-1"/><path class="p2" d="M1080 1216l1 1 0 1-1-1-1-2 1-1-1 0 3 0 1-2 0 0 0-2 3 1 0 0 0 1-2-1 1 2-1-2-3 2 1 1-1 0 0-1 0 0-1-93 1 88-1 2 0 1 0 0 1 3-2 1 0-2 2 0 0 0 3 1 1-3-1 0-2 1 0 1 3-2-1 0-2 1 1-1-1 0-4 1 2-2-1 0-2-1 8 2-1 1 1-1-2-1-4 0 1 2 1-3 0 0 2 1-5 7 2-2-2-1-2-2 0 0 0-1 3 2-2 1 0 1 0-2 0 0 3-2 1-2 1 0-2 1 0-1 1 1 0 0 0-3 0 1 1 0 0-1 2 0-1 2 3 0 3 1-3-2-1-55 0 53-4 1 1 1-1 0-1 0"/><path class="p9" d="M1099 1221l-23-3 1 1 4 1 8-1-5 0-1 0 1 0-7 1-2-1 3 0-4 0 12 5-8 0 7 2"/><path class="p1" d="M1066 1217l1 0 0 0-1-1 2 0-1 0 3 0 1 0-2-1-1-2 0 1-2 0 0 1-1 0-1 0 4 0-4-1-2 0-1 0-2 0 1-1 1 0 3 0 1 1"/><path class="p5" d="M1102 1221l-2 1 1-1 2 1-5 1 2 1-3 0-1 0 2-2 0 0 1 1-5 0"/><path class="p3" d="M1086 1206l2-2 0 1-1 0-1 0 1 2 2 2 0-2 1-1 0-1-1-5-3-5 0 0 2 2 0 0-4 1 2 0 1-5-1 2 1 0 1 3-2-1-3 5 1 0 0 4 2 3-1 1-2 1 0 0 0-1-2 3 1-2-1-1 2-1 3-3 0 2 0-1 0 1-1 0-5-14-1 0 6-7 1-2 5 4-5 3 1 3 6 0-3 3-6 13 0-12 4 1-5 8 5 2-8-11 7-13 1-11-7 1 4 5-2 11 5 1-4-8-5-2-2-6-4 9 2-1 7 0-6-4 12 14-3 8-1 5 0 0-3-15-3 7 3-3-7 10-2-6 5-4 1 8 0 2-7-5-5 12 9 1-5 5-9-7-5-5 1-6-4-4-1 12 2-7 11 9 8 5-1 6-1-6-6-3 27-5-1 0 0-1 0 0-1 2 2 0 0 2-2 0 1-1 0 3-1 2 1-4 1 4-2-5 4-7 2-1-3 0-2 2-2 3"/><path class="p8" d="M1111 1222l-2 0 1 2-2-2 3 2 1 0 3 0-18 0-1 0-1 0 0 0 4-2-3 0 0 0 1 0-5 0 0 0 3 0 8 0-5-1-1 1-1 1-2 1-2-2 5 3 8 1-4-4 3-1-4 2 3-2 1 1 0 1 3-2-3 0 5 0 3 0-4 0 4 3-2 0"/><path class="p6" d="M1124 1223l-1-1 0 0-2-2-3 2-34 2 31-1 0-1-2 0 2-1-1 0 1 0 4 0-2 0 2 0 0 0-9 2-4 0 0-1-2 0-3 1 0 1 0-1-4-1 0 0-2 0 5-1 2 1 3 2-19 4 18-4 9-6-5 0-3-1-2 1-4 6 0 3 4 4 2 0 1-3 0 4-8-1-4 0-7 1 10-5-1 3-3-2 7-3-2 1 10-4 0-1-2 0 0-1-2 1 2 0 0 2 4 0-2 0-1 1-3 0-2-2 3 0 2-1-5 1 3-1-1 0 0 1 5 0-2 0-1 0-5 1 5 0"/><path class="p4" d="M1099 1204l-1 4-5 14 1 0 0-1 2 0-1-2-1 3-1 0 1-1-1-1 3 0 5-14-7 1 2-5-6 1 7 6"/><path class="p7" d="M1084 1224l11-2 2-4 2 2 4 1-6 0 10-3-10 2 7-3 9 1 0 1 5 0 10 4-11 2-7 0-1-1 3-3-8-2-4-6-13 2 8 2 11 8-2-1-2 1"/><path class="p2" d="M1078 1208l0 2 1-2-1 0-2 0 0-2 3 2 1 2-7 3 2-1 0 0 0 2-1 0-1 3-1 1 2-1 0 1-2 1-1 0 1 0 0 0 2-2 4 1 0-1 2-5 1 0-2 0 3-5 1 0-2-1-1-63 1 65-2-1 3 1-2 0 0-1 4 1 2-1-10 20-1-3-2-8 0-7-3-6 8 5-4-1-9-4 9 6 0 4 7-13-10 1 3 2 4 0 2-4-1-2 4 27 0 1-2 4 8-5 3 1 10 7 7-2"/><path class="p7" d="M1105 1220l0 0-1 1 4 1 0 1-1 1 0 2 2 0-6-2 1 0 0 0 2 1 2 0 2 1-3 0 1 1-3-1"/><path class="p5" d="M1100 1221l0 1 6 0 1-1 3-1 1 0 0 0-2 1"/><path class="p9" d="M1081 1228l3-1-4-6-27 2 2 0 0 1-2 0 27-3 9-1-29-11-7-1 13 0 10-2-7 2 9-1 7-1-9 2-3-1-6 3"/><path class="p6" d="M1118 1222l1 0 0-1 1 1 2 0 0 0 1-1-1 0-4 0-1 0 1 1 0-2-32 7-13-1-4-4 47 1-3 0 0 0-3 0 0-1 1 0 1-1 1 1-3-1 3 0 1 0 2 0 1 0 0-2 0 3 0-1-1 0 1 1-1 0-1 0 18 2 3-5-12-3-7-3-2 3 2-1-1 3-6 2 3 1 2-2-9 4-2-1 5 1-37 2-7 0 5-1 0 1 4-2-1 0 9-3 25 2-1 2-7-1 4 0 3-1 2 0 3 0 2 0 5 1-4 0-3 1 3 0-9-1 3 4 14-2-7-1-1 4-2-1 8-3-5 2-1-3"/><path class="p3" d="M1089 1207l4-6-1-1 0 1 1 1 1 0 0 2-2-4 0-1-2 1-17 5 1-1 2 0 9 11 0-1 0 2-10-4 8-94-3 80 11 5-1 0-1 3 1 1-1 4-2-2 0 1-2-1-9-9-3-3 6-4 3 3 10 10-5-7 0-1 3-1 2-6-6 2 0-10 0-10 0 2 5 6-5-2 2 4-7 12 2-9-3 2 1 11 5 3-7-19-6 24 4-10"/><path class="p8" d="M1109 1225l-2 0 0 0 0 1 3 1 1 1 2-2-5-2-16 0 4-1-5-1 2 0 3 2-3 0 1-2-3 0 1 0-5 1-24-5 10-4 11 3-11-3 39 1 9 0-18 11-12 3 34-5 11 1-11 2-7 3-23-4 17 2-2 0 6 0 7 3-13 0-26-4 1-1 4 2 7 1-4 2 8-3 1 2-11 3-6-3 0 0 10 1-15-1 13-5 12 0 4 4-10 0 1-1-17-5-5 0 5 4 7 0 8-4 1-1-2 1 2-1 0 1 0 0 0 1-1-1 5 4-8-11-6 0 15 2 4-2-3 11-13-10 3 4-5-1 0 3 5 0 3-5 4 1 4 5-17 0 16 0 0-4 0 3-3 1 4 0-5 0-5 0-3 0 2 0 9 5 1-1-7 2-4 0-4 1-6-3 2-1 1 0 0 1 2 0 0 0 2 0-1 0 3 1 2 0 1-1 2 1-7-1 0-6-1 6 2 0-1 0 0-1 0 0 1 1-1-1 0-1 7 0"/><path class="p1" d="M1070 1211l0 1 2-1-1 0-1 1-1-1-2 0-1 0 1 0 0-1-2 1 1 0-1 1 0 1 4-3-2 1 2 3-6-1 4 0 2 1-1 0-3-1 0 0 0 2-3-2-6 2-3 2 8 1-2-1"/><path class="p4" d="M1099 1225l-7 1 0 3 2-10 2 0 4 3-7-10 10 8-10 5 2-3 10 2-5 0-1 3 0 2-6-4-7 3 0-2-7 3 13-19 0-2 2 1 2-2 0-1-2-2-13 10-2 9"/></g></g><clipPath id="kc43"><rect x="1163" y="1112" width="127" height="127"/></clipPath><g transform="scale(.5)"><g clip-path="url(#kc43)"><path class="p6" d="M1235 1221l1 9 7 2-5-2 11 2-6 0 2-2 4-1-3-1-3 0 6 0-14-3 12 7 3-8 1-3 2-2 9 0-4 2-6 0-13 1 1 1 0-1-1 0 3-1-1 0-2-1 1 0 0-1 1 2 1-1-2 1-3-1-1 2-10-4-5 0 1 4-1-2 1-5-1-2-5 4 1 3 10 11 0-4-4-12 4 1-2 5 2-5-1 1 2-5 1 1-2 1 8 2-3 5 3 0-1-2 7 1"/><path class="p8" d="M1234 1219l-3 2 1 1 4 3-7 7 2-1 4-1-5-3-1 1 8-2-4-2-2-1 1 0 2-1 0 0-1-2 0 1 0 0 3-2 0 0"/><path class="p9" d="M1231 1221l-1 1-2 1-2 1"/><path class="p2" d="M1237 1211l2-1 10-2-8 0 5 2-2 0-2 0 1 0 4-2 0 1 0-2 0 0-3 1 4 11 3 5-5 4 0-3-1-2 12 1-2 1 10 0 0-3 4 1-8 1-3-5-10-1 7 5-4-13-4 0 0 1 2 1 0 0-2-1 0-1-58-65 64 56-4 2 0-1 2 2 2 0-1 3 3 2 0 2-2 0-1-3 0 0-1 3 0 1 2-1 1 1-1 0 1 2 0-2 2 0-2 2-25 3-1-4-3-10 1 1-12 3 0 1 5 6 5 1-1 0-2 7 4 1-3 0 3 5-6 1-1 1 9-1 13 3 4-6-2-5 1-7 0 3-14-1 9-2-1-4-2-2-3-5-12 7 3-4 5 0 8-6 9-2 2 0-5 5 1-3 10 1 10 1 5-7-10 10-5 0-1 7-8 7 4 5 3-4-13-8 0 2 1-5-3-5 2 2 4 3-2-3-1 0 13-2-9 1-9 4-4 0-8-5-3 0-2-1-4 1"/><path class="p1" d="M1250 1212l2-1-2 1 0-1 0 1 0 1 0-1-1 0-2 1-1-1 0 0 2-1-12-5-2 2-6 0 9-1 1 3-2-1 2 0 0 2 5 0 10-3-2-1-1 1 1 0-1-1 2-1 2 1-1 0-2 1-2 2 0 1 1 0-2-2 3 0-1 0 1 1-2-1 4 1 1-2-1 1-1 0-2 0 0 0 0 1 2-1 0-1 3 2-5 1 10-4-4 5-17-6 5 7-2 0 2-1"/><path class="p7" d="M1236 1214l1 9-2 0 2-1-1 3 0 0"/><path class="p5" d="M1239 1223l-4-1 21 2-19 4 12 0-2-2-2 3 1-1-3 2-5 2 3-14-2 0-1 0 0 0-1 2 0 1-2 0 0 0 1 0 1 0 1-2 2 1-3 0 2 0 2-1 0 1-5 7 3-5 0 0 1 0 1 1 0 0-1 1-1 0-1 0 2 0 0 0 2 0-2-2 0 0 0-2-2 0-2 0-3 0 0-1 2-1-2 2 4 5 3-3-5-2-13 1 0-2-1 0 0 1 0 2 5 1 2 3-10 4 2-1 3 0"/><path class="p3" d="M1245 1201l0-3 0 2 6-1-3-3 3 0-4 3 4 1-4-1-3 1-3-1 8-7-15 19-1 0-3 3-5-6-2 2 8-3 0 0 1 2 1 4 0 0-1-5 6 0-3-6-1 4-2 0 4 1 2 1 0 0 3 1 1-1 2-1-6 0-1-2 1 0-5 1 1 0 0-4-3 0-2-1-3 1 1-1 2 2 1 3 3 1-1 1 0 0 1 0 3-4 4-2 1 0 2 4 7-11-2 4-3-1-3 1 0-3 2 0-10 2 3-2 1-1 3-4-2-2-6-2-1 0 1 2 27 33-22-16-2-4 2 3-3-2-1 0 2 0 3 3-24-3 2-1 16-4 4 3-2 1 1-1 4-1 1-3-2-1 2 2-1 3 3 3 2-1-1 0"/><path class="p3" d="M1246 1201l0 4 6 0 6 2-3-1-4 1-1-4 2 3-1-1 1-2-8-27-6-9 3 16-11 8 13 1 23-11 2 6 2 13-3-3-11-3-7-9-14 29 0-6 10 3-7 4-14 10 16-13 5 9-11-6-25 4 26 0-8-5 2 3-31 1 29 5-10-2 4 2-11-13-18-2 35 10-7 9-12-3 15 3 19-24 1 0-6 0-50-2 50 1 2-2 3 5 1 2"/><path class="p1" d="M1250 1207l4 0 4 0 6 1-9 2-3 5-1 0 2 0-1 1-4-2-1 0-1-1 0 0 0 0 1 1 1 0 0 2 0-1 0 1 1 0-1 1 0-1"/><path class="p5" d="M1240 1225l-1-1-1-1-8-8 6 0 6 2-10-4-5 2-2-2 4 5 6 5 3-1 7-3 1 3 5-1-16 5 10-8 8-1-1-2-17 16-2 0 2 0 0 0-1-4 2 1-11 4 3 0 8 0 0-4-1-2"/><path class="p7" d="M1242 1230h0"/><path class="p4" d="M1227 1213l-3 0 3 3 7-3 0 0 4-1-25-1 22-1-4 3 3 0 0-2 1-3-8 0 1 8-6-1-2 2-5 1 3 1-4 2-6-1-8-3 6 3 5 0 7-1 0 2 0-2 1-1 1 1 5-3-1-1 0-3-3 0 1 1-5 2 1 1-1 3 1-2 6 1 2 2 1-3-4 1-4-3 7-3-4 0-3 0 2 0 0-1-7 2 0-2"/><path class="p8" d="M1237 1227l0 1-2-1-2 1 1 0-1 0-3 0 3-1 2 1-3-1 3-6 0 0-1 2 2 0-1 0-2 0-1 0 0 1-1 1-1 1 0-2 2-1 1 0-12-1-3 1-3 2-3-2-1 1 2 1 3-3 4 4 5 2 2-4 1 1-1-1 0-2 7-3 3 5 7 2-9-3 2 0-1 0 2 3-2 0-2-1-1-1 0-3 1 1 0-2 0 1-1-1 0 0-1 0 2 0-1 1 0 2-3 0 0-1-1 0 0 0 3 1-2 0 0 0 3 0 0 1-3-1-2 0 1 1-2 0 0 0"/><path class="p2" d="M1245 1212l2-2 2 4-2-1 3 0 0-2 0-1-6 1-2 1-4 1 4-1 0 0 3 0-1-1-38-72 39 71-2 0 0-1 0 2 2 0-1-1 2-2-1 1-58-74 59 76-1 0 0-1-2 0-6 7-5 0 13-3-4 5 11 1 4-3 0-1-4 6 4 1-5 1-12-4-9-4 10 3-3 6 2-2 8-2-4-2-56-97 62 91 5 1-3 4-1-1 1-3 3 4-10 2 3-3 5-7-5-10 6-1 4 4-27 29 5-19 2 0 0 1 0-2-1 2-1 1 2-1 0 1-1-1 1-1-1 1 1 1-1 0 2 2 2-1 2-2 3-1 0 0-38-88 34 87 2 2-1 1 0 0-2-1 0 2 5-2 1 2 9-8 2 8-9-2 5 0-7 6 1 1-53-84 52 81 8 2-3-1 15 1 3 1-1-7-5-5-5 0-7-3 3-3 10-7-5 7-9 10-3-1 3 6"/><path class="p6" d="M1241 1219l-1 0-3 1 0 1 2 0 0 0-1 0 2 0-1-1-3 1 26 6-6-1-1 1 4 2-7-3 4 0 8 2 4 4-4 1 4-1-31-10 2 0 0 0 1 0-12 3 3-3 6 0 2 4-6-7 1-2"/><path class="p9" d="M1229 1215l1 1 0-1 0 1 1-1 0 0 0 0 0-1 1 5 0 0-1-1 0 0 1 0 0 0-1 0-1 0 0 0 0 1 1 0 1-1-1 0 0 1 8-4-2 0 0 1-2-1 1-2 0 0-1 2-1-1 0 2-2 5 1 4-2-1-2 1 1 0-1-1 2-1 0 4 2-2 0-1-2-3 1 3"/><path class="p4" d="M1223 1204l1 4 5 14-1 0 5-1-1 0-4-2 0 3 5 0 0-1 0-1-5 0-31-14-7 1 11-5-9 1 1 6"/><path class="p7" d="M1240 1224l-2-2 0-4-2 2-2 1-1 0 5-3 1 2-1-3 1 1-5 1 0 0 3 4 2 2 2 0-3-1 0-3-3-2 2-6 1 2 1 2-9 8 1-1 0 1"/><path class="p2" d="M1245 1216l-1 1-4 1 2-1 1-2 2-1 1 0-2 0 1-2 1 0 0-2 6 1 0 0-3 1-2-1 2 2-2-2-3 2-1 1 0 0-1-1-2 0-38-93 36 88 3 2-2 1 1 0-3 3 0 1 0-2 1 0 3 0-3 1-2-3 1 0 2 1 0 1 0-2 0 0 0 1 1-1 2 0 2 1 3-2 1 0 3-1-5 2 2 1-1-1 4-1-7 0 1 2 0-3-1 0 2 1 4 7 1-2 1-1-1-2-3 0-2-1-1 2 2 1-3 1-1-2-4 0 2-2-1-2 0 0 2 1 1-1 2 1 0 0-4-3 3 1 1 0 0-1 1 0-3 2 1 0-3 1-3-2-30-55 33 53 0 1-1 1-2 0-2 0"/><path class="p6" d="M1239 1223l0-1 1 0-1-2-2 2 2 2-4-1 0-1 0 0 2-1 0 0 2 0-5 0-3 0 0 0 1 0 6 2-3 0-1-1 1 0 0 1-2 1-2-1 0-1 0 0 0 0 1-1 0 1 3 2 5 4-3-4 13-6-3 0-7-1-5 1 1 6 1 3 2 4 1 0 6-3 0 4-1-1 3 0 1 1-6-5 5 3 2-2-1-3-2 1-7-4 1-1-1 0 0-1-2 1 0 0 1 2 0 0 1 0-1 1-2 0 0-2 1 0 1-1-3 1-1-1-1 0 0 1 1 0 2 0-1 0 0 1 0 0"/><path class="p8" d="M1235 1222l-1 0 2 2-1-2 0 2-1 0 1 0 0 0 0 0-1 0 1 0 0-2 2 0 0 0 0 0 0 0-2 0-2 0-5 0 4-1 0 1 4 1 0 1 0-2-5 3 2 1-5-4 0-1 1 2 3-2-2 1-1 1 1-2 0 0 0 0 1 0-1 0 0 3 1 0"/><path class="p1" d="M1254 1217l-1 0 1 0 1-1 2 0-2 0-1 0-1 0-1-1-1-2-1 1 1 0 2 1-1 0 4 0-3 0-1-1 0 0 0 0 1 0-1-1 0 0 1 0-1 1"/><path class="p5" d="M1239 1221l0 1 1-1 1 1-1 1 0 1-2 0 0 0-1-2-2 0 1 1 2 0"/><path class="p3" d="M1238 1206l3-2-4 1 4 0 1 0-2 2-2 2 2-2-3-1 7-1 1-5 2-5 1 0 0 2-1 0-11 1-3 0 0-5 5 2-1 0 1 3 5-1 7 5 1 0-2 4 0 3-5 1 0 1-3 0-35-1 37 3-4-2-1-1 1-1 1-3 0 2 1-1 2 1-3 0-55-14 77 0-11-7 14-2 4 4 2 3-9 3 4 0 1 3-4 13-69-12 70 1 6 8-10 2-4-11-2-13 1-11-1 1 2 5-6 11 8 1-12-8 6-2 3-6 5 9-4-1 6 0-3-4 1 14-11 8 8 5 6 0 2-15 5 7-5-3-5 10-2-6 7-4-6 8 4 2-12-5 2 12 7 1 2 5 7-7 0-5-68-6 61-4-4 12 5-7-3 9-62 5 45 6-6-6 8-3-3-5-53 0 43-1 3 0 3 2 1 0-1 2-5 0 1-1-2 3-1 2-1-4-3 4 5-5 4-7-3-1 0 0-3 2-5 3"/><path class="p9" d="M1232 1221l-2-3-1 1-1 1 1-1 0 0-1 0 1 0 0 1 0-1 0 0 1 0 3 5-1 0 0 2"/><path class="p1" d="M1251 1211l1 1-2-1-2 0 0 1 0-1-2 0 2 0 0 0 2-1 0 1 1 0-2 1 2 1-26-3 6 1 5 3 7-1 0 0-1 1 6 0-7-1 5 0 2 2 3-2-1 2-1 2 1 1 4-1"/><path class="p2" d="M1248 1208l1 2-3-2 0 0 0 0 3-2-1 2 0 2 0 3 0-1 1 0 3 2 2 0-1 3-5 1-1-1 1 1-1 1-4 0-2 0 1 0 0-2 3 1 2-1 0-5 1 0 1 0-10-5-2 0 2-1-40-63 37 65 2-1-1 1 0 0 2-1 1 1 1-1 9 20 11-3-3-8 5-7-9-6-1 5-1-1 6-4 6 6 0 4-34-13-3 1-6 2 2 0-6-4-9-2 43 27-7 1 5 4 10-5 5 1 1 7-6-2"/><path class="p4" d="M1229 1225l6 1-1 3 3-10 3 0-16 3-6-10 29 8 8 5-1-3 2 2 12 0-7 3 1 2 5-4 2 3-18-2-12 3-15-19 4-2-2 1-6-2 2-1-5-2-22 10 7 9"/><path class="p3" d="M1224 1207l3-6-1-1 2 1-2 1 2 0-2 2 4-4 5-1-5 1 29 5 1-1-6 0-4 11-4-1 2 2 4-4-55-94 46 80-10 5 2 0 6 3-2 1 0 4 0-2-2 1 1-1 25-9 3-3 0-4-3 3-7 10-4-7-13-1 4-1 13-6 8 2 0-10 0-10-26 2-1 6-7-2 13 4-1 12-2-9-6 2-7 11-5 3 8-19-46 24 18-10"/><path class="p8" d="M1237 1225l-1 0-1 0 2 1 0 1 1 1-1-2 0-2-5 0 0-1 1-1 0 0-1 2 2 0 0-2-1 0 1 0-1 1-13-5-2-4 0 3-1-3 19 1 7 0-4 11-6 3 18-5-5 1 2 2-5 3-2-4 11 2-1 0-2 0 2 3-1 0 2-4-1-1 0 2-8 1 4 2-5-3 8 2 2 3-6-3-1 0 8 1-2-1 0-5-5 0 7 4-9 0 5-1 1-5 2 0-8 4-6 0 0-4-2-1 0 1 1-1 1 1 0 0-1 1-1-1 5 4-8-11-4 0-3 2 6-2 9 11-18-10-5 4-1-1 2 3-9 0 6-5 10 1 19 5-11 0 12 0-1-4-8 3 0 1 1 0-3 0-1 0 1 0 0 0-1 5-1-1-1 2-3 0-3 1-2-3 5-1 0 0 0 1-1 0 1 0-1 0 4 0-1 1 1 0 1-1 1 1-1-1 4-6-5 6 2 0-2 0-1-1-2 0-1 1 1-1 1-1-3 0"/><path class="p7" d="M1232 1220l-1 0 1 1 0 1 0 1 0 1 1 2-1 0 5-2-1 0-1 0 1 1 1 0 0 1 0 0 1 1 1-1"/><path class="p9" d="M1228 1228l-1-1 2-6-1 2 1 0-1 1 0 0-2-3 1-1 7-11-4-1 1 0 2-2 0 2-1-1-4-1-1 2 4-1 0 3"/><path class="p6" d="M1233 1222l2 0 1-1 0 1-3 0 2 0 3-1 1 0 0 0 2 0-2 1 1-2 19 7-4-1 3-4-24 1 0 0-1 0-1 0-2-1 2 0 1-1 1 1 1-1-1 0-1 0-2 0 1 0 1-2 2 3 1-1 1 0 1 1-2 0-1 0-9 2 2-5 4-3 3-3-5 3 10-1-1 3-7 2 0 1 1-2 8 4-13-1-3 1 9 2 3 0-5-1-6 1 5-2 4 0-2-3-2 2-2 2 7-1 0 0-2-1 1 0 0 0 0 0-1 1 2 0-12 1 0 0-2-1 1 4 4-2 6-1-2 4 1-1 9-3-1 2-4-3"/><path class="p5" d="M1238 1221l0 1 1 0 2-1 0-1-3 0-1 0 1 1"/></g></g><clipPath id="kc45"><rect x="1428" y="1112" width="127" height="127"/></clipPath><g transform="scale(.5)"><g clip-path="url(#kc45)"><path class="p1" d="M1474 1212l1-1 1 1-1-1 1 1 0 1-1-1-2 0 1 1-1-1-1 0-1-1-11-5 1 2 2 0 3-1 0 3-1-1-5 0-6 2 3 0 13-3 0-1 0 1 0 0 0-1 0-1 2 1-1 0 1 1-1 2 2 1-2 0 0-2 1 0 0 0 1 1-1-1 1 1-1-2 1 1 0 0 1 0-1 0 1 1 0-1 0-1 0 2 3 1 0-4 3 5 2-6-6 7 0 0 0-1"/><path class="p2" d="M1465 1211l-3-1 3-2-1 0 6 2 1 0 2 0 0 0 0-2-1 1 0-2 2 0 0 1 11 11 1 5 0 4-3-3-2-2-3 1 2 1-2 0-3-3 1 1 3 1-2-5 5-1 4 5-8-13-1 0-1 1 0 1-1 0 0-1 0-1-31-65 27 56 2 2-2-1 2 2 1 0-1 3 1 2 0 2 0 0 1-3 1 0-1 3 1 1-1-1 0 1-3 0 3 2-1-2 1 0 0 2 17 3-7-4-11-10 2 1 2 3-4 1 4 6 1 1 0 0 3 7-2 1 2 0-1 5 1 1 0 1 5-1 2 3-2-6-2-5-9-7-1 3 1-1-4-2 3-4 1-2-2-5 3 7 2-4-5 0 0-6-1-2 3 0 3 5-5-3-3 1 0 1 1-7 4 10 2 0-3 7 0 7-1 5 0-4-4-8-2 2-2-5-1-5 3 2 7 3 0-3 7 0-1-2 3 1 2 4 2 0-3-5 3 0-2-1-3 1"/><path class="p5" d="M1486 1223l-2-1-5 2 5 4 3 0 3-2 4 3 5-1 3 2 0 2-18-14 0 0 3 0 1 0-1 2 0 1 2 0-2 0 0 0-1 0-1-2 0 1 1 0 2 0 1-1 0 1 3 7-2-5-2 0 0 0 0 1 0 0 3 1-2 0 1 0-3 0 0 0 1 0-1-2-2 0 1-2 0 0-1 0 0 0 1-1-1-1 3 2 0 5-3-3-6-2-1 1 5-2-3 0 4 1 7 2-1 1 3 3 0 4-3-1-3 0"/><path class="p3" d="M1469 1201l1-3 0 2 0-1-1-3-2 0 0 3 1 1-2-1-1 1-2-1 13-7 0 19 0 0 1 3-3-6 2 2 0-3-1 0 1 2 2 4 0 0-2-5-2 0-1-6 1 4 0 0 0 1 1 1 1 0 0 1 3-1-2-1-2 0 1-2-1 0-1 1 1 0-2-4 2 0 0-1 1 1 0-1-2 2 2 3 0 1-3 1 1 0 0 0-2-4-1-2 2 0 2 4 1-11 2 4 1-1 0 1-3-3-1 0-5 2-1-2 0-1-2-4 0-2-1-2 0 0 0 2 8 33 0-16-2-4 0 3-1-2 2 0 0 0 2 3 4-3 0-1-7-4 1 3 1 1-1-1 1-1-1-3 0-1-1 2 2 3-1 3 0-1 0 0"/><path class="p8" d="M1472 1219l2 2 5 1 4 3 12 7-4-1-1-1 2-3-3 1 3-2 4-2-1-1 1 0-1-1-2 0 0-2-1 1-1 0-1-2-1 0"/><path class="p7" d="M1484 1214l8 9-1 0 1-1 1 3 0 0"/><path class="p9" d="M1500 1221l0 1-3 1 9 1"/><path class="p6" d="M1489 1221l1 9-1 2-5-2 5 2-1 0 4-2 5-1 1-1 1 0 3 0 2-3-3 7-4-8-3-3 3-2 2 0 5 2 0 0-11 1 1 1 0-1 1 0 0-1 0 0 0-1 0 0 2-1 0 2-1-1 0 1 0-1-2 2-13-4 0 0 3 4 3-2-5-5-4-2 5 4-1 3 11 11 2-4 1-12-9 1 0 5-3-5-2 1-5-5-2 1 0 1 7 2-6 5 5 0 2-2 5 1"/><path class="p7" d="M1490 1230h0"/><path class="p3" d="M1472 1201l3 4-1 0 2 2 1-1 0 1-2-4 1 3-1-1 0-2-10-27 1-9 2 16-1 8-4 1-1-11 5 6 5 13-3-3-3-3-5-9 20 29-1-6-2 3-1 4 7 10-5-13 0 9-4-6 3 4 3 0-7-5 9 3 6 1-3 5 3-2-2 2-4-13-3-2 3 10 1 9-3-3 3 3-5-24-2 0 2 0 0-2 0 1-2-2 1 5 0 2"/><path class="p2" d="M1474 1212l-1-2 3 4 1-1-1 0 0-2-1-1 1 1 0 1-1 1 2-1-1 0 0 0-2-1-24-72 24 71 1 0 0-1 2 2 0 0-1-1-2-2 0 1-29-74 29 76 1 0 0-1 1 0-4 7-2 0-1-3 3 5 1 1 3-3 1-1 2 6-3 1 4 1 3-4 1-4 3 3-5 6 0-2 0-2 2-2-28-97 27 91 2 1 4 4 8-1-3-3 1 4-7 2-8-3 0-7-6-10 1-1-3 4 11 29-7-19 1 0 0 1 2-2 0 2 1 1-1-1-1 1-1-1 1-1 0 1-1 1 2 0 0 2-2-1-1-2 1-1 0 0-16-88 19 87-1 2 0 1-1 0-1-1 0 2-1-2 1 2-3-8 4 8-10-2 2 0 3 6 8 1-23-84 27 81 2 2-4-1-15 1-2 1 7-7-2-5-3 0 1-3 4-3-1-7 5 7 1 10-2-1 1 6"/><path class="p1" d="M1477 1207l-1 0 2 0 2 1 0 2-2 5 0 0 0 0-1 1-3-2 0 0-1-1-1 0 1 0 1 1-1 0 1 2 1-1-1 1 0 0 0 1 1-1"/><path class="p4" d="M1485 1213l0 0-1 3-2-3 1 0-1-1 1-1 0-1 2 3-1 0-2-2 0-3-1 0 0 8 1-1 0 2-1 1-1 1 0 2 0-1 2-3 0 3-2 0 0-1 2 2 0-2-2-1 0 1-2-3-1-1 0-3-1 0 2 1 0 2 3 1 0 3-2-2 1 1 0 2 0-3-1 1 0-3-2-3 0 0 0 0-1 0-2-1 3 2-1-2"/><path class="p6" d="M1488 1219l-1 0 3 1 0 1-2 0 1 0 1 0-1 0-1-1 0 1-1 6-3-1 1 1 4 2-3-3-5 0 0 2 6 4-1 1 0-1-1-10 1 0 0 0-2 0 1 3 3-3-1 0 1 4 0-7-3-2"/><path class="p9" d="M1510 1215l22 1 0-1-24 1 0-1-2 0 0 0-1-1 2 5-1 0 25-1-25 0-2 0 1 0 2 0 9 0-7 0-1 1-1 0 0-1 0 0 20 1-28-4 2 0 6 1 5-1-3-2-2 0 0 2 7-1 6 2 12 5 1 4-9-1 5 1 2 0-9-1 1-1 2 4-5-2-2-1-6-3 0 3"/><path class="p5" d="M1486 1225l1-1 1-1 0-8 5 0-4 2-2-4 0 2 2-2 0 5 1 5-3-1 0-3 1 3 0-1 5 5-8-8 2-1 4-2 9 16-3 0-4 0-4 0-1-4 8 1 0 4 4 0 6 0 0-4 8-2"/><path class="p8" d="M1498 1227l1 1-1-1 2 1 1 0-1 0 0 0-1-1-2 1 1-1-2-6 0 0-1 2 0 0 1 0 2 0 0 0 0 1 0 1 1 1-3-2 0-1 0 0-3-1 0 1 2 2 3-2-1 1 3 1 0-3 2 4-8 2 2-4 8 1 1-1 2-2-5-3-2 5-2 2 2-3-1 0-1 0 1 3 3 0-2-1 1-1-1-3-3 1 0-2 0 1-1-1 0 0 1 0-1 0-1 1 1 2 3 0 0-1 1 0-1 0-2 1 1 0 0 0-1 0 0 1-3-1 2 0-1 1 0 0 0 0"/><path class="p8" d="M1492 1222l3 0 1 2 1-2-1 2 0 0-1 0-3 0 1 0 1 0 0 0-2-2-1 0 1 0 0 0 1 0 1 0 1 0 2 0-1-1-1 1 4 1-2 1 0-2-3 3 5 1-1-4 0-1 1 2 0-2 0 1 1 1-1-2-1 0-1 0 1 0 1 0-1 3 0 0"/><path class="p3" d="M1476 1206l-2-2 0 1-1 0 1 0 0 2 0 2-1-2-2-1 2-1-1-5-3-5-1 0 1 2-3 0 8 1 0 0-1-5-1 2-1 0 1 3 3-1-2 5-2 0 3 4 0 3 1 1 0 1 1 0-1-1 4 3 0-2 0-1-1-1 0-3 0 2 0-1 0 1-1 0-5-14-2 0 1-7-2-2 4 4 4 3 6 3-4 0 2 3-6 13-2-12 1 1 6 8-3 2-2-11-5-13-5-11-4 1 4 5 2 11-2 1-3-8-2-2-3-6 0 9 2-1-1 0 0-4 6 14 3 8 3 5-6 0 3-15 6 7-5-3 6 10-6-6-1-4 3 8 3 2-2-5 1 12 0 1 3 5-6-7 2-5 0-6-2-4 2 12-2-7 8 9 3 5 0 6-1-6-4-3 1-5-1 0 0-1 0 0 2 2-2 0 0 2 1 0 1-1 0 3 2 2-1-4 1 4-2-5-3-7-1-1 0 0 1 2 3 3"/><path class="p4" d="M1477 1204l3 4 3 14-1 0-2-1 2 0 1-2 2 3-1 0-2-1-1-1-1 0-3-14 0 1 3-5 4 1 1 6"/><path class="p5" d="M1486 1221l-1 1 0-1 0 1 1 1 0 1-1 0 1 0-1-2 2 0 0 1 13 0"/><path class="p7" d="M1493 1224l9-2-3-4-2 2-8 1-1 0-2-3-1 2-1-3-2 1-3 1-2 0 4 4 7 2 6 0 1-1-3-3-4-2-4-6 4 2 3 2-3 8-1-1 1 1"/><path class="p9" d="M1510 1221l-2-3 1 1-1 1-3-1 0 0 1 0 0 0 19 1-7-1-11 0 2 0 0 5 12 0-8 2"/><path class="p2" d="M1475 1216l1 1-1 1 0-1-2-2 2-1 0 0 1 0-2-2 1 0-1-2 1 1 2 0 1 1 0-1-1 2 0-2-1 2 0 1 1 0-1-1 1 0-31-93 29 88-2 2 1 1 2 0 0 3 1 1-2-2 0 0 0 0 0 1-1-3-1 0 1 1 1 1 1-2-1 0-1 1-1-1 0 0 1 1 0-2 2 0-2-1 1 2 0 1 0-1-2-1 3 0 1 2-1-3 1 0 0 1 3 7-1-2-1-1 0-2 1 0-1-1-1 2 1 1 0 1-1-2 0 0 0-2 1-2-1 0 0 1-1-1 1 1 0 0 2-3 1 1 2 0-1-1-2 0 1 2-2 0 2 1-1-2-28-55 27 53 2 1 0 1-1 0-1 0"/><path class="p1" d="M1474 1217l0 0 1 0 1-1-1 0 0 0 0 0 1 0-1-1 1-2 0 1 1 0-1 1 1 0-1 0 1 0 0-1 0 0 0 0 0 0 0-1-1 0-1 0 1 1"/><path class="p6" d="M1487 1223l1-1-1 0-1-2 0 2 3 2 0-1-1-1 1 0-1-1-1 0 0 0 1 0 1 0 0 0 0 0 2 2-1 0 0-1-1 0 0 1-1 1 2-1 0-1-1 0 0 0-1-1 0 1 2 2 1 4-3-4-5-6-4 0 2-1-2 1 5 6 3 3-1 4-2 0-4-3 0 4 5-1 5 0 1 1-1-5 3 3-2-2 2-3 2 1-7-4 1-1-1 0 1-1 2 1-1 0-2 2 0 0 0 0 0 1-1 0 1-2-1 0-2-1 1 1-1-1-1 0 0 1-1 0 0 0 0 0 0 1 1 0"/><path class="p8" d="M1499 1225l0 0 0 0-2 1 1 1-1 1-1-2 1-2-1 0-1-1-1-1 1 0 1 2 1 0-1-2-2 0 1 0 1 1 1-5 3-4-3 3-2-3-2 1 0 0 3 11 3 3-2-5 4 1 0 2 1 3-8-4 2 2 2 0-1 0 1 3 1 0 0-4 6-1-2 2-1 1-4 2 1-3-2 2 5 3-1-3-5 0-3 1-3-1 6-5-1 0 2 4-2 0-3-1-3-5-1 0 1 4 4 0 3-4-1-1 2 1-1-1 0 1 1 0 0 1-1-1 9 4-8-11 0 0 0 2-5-2 7 11-5-10 5 4-6-1 2 3 0 0-6-5-3 1 32 5-6 0-1 0-2-4-8 3-2 1 0 0-1 0 0 0-1 0 1 0 0 5 0-1 2 2 0 0 2 1-1-3 0-1 2 0-3 1 1 0 0 0-2 0-3 0 1 1 0 0 0-1 0 1 0-1-3-6 4 6-1 0 2 0 1-1 1 0-1 1-1-1 0-1-1 0"/><path class="p3" d="M1476 1207l-4-6 0-1 2 1 0 1 2 0 0 2-2-4 0-1 0 1 3 5 1-1-1 0 6 11-2-1 0 2 6-4-33-94 19 80-1 5-1 0 2 3 1 1 2 4-2-2 3 1 2-1-7-9 0-3 4-4-7 3-1 10 5-7 0-1-2-1-7-6 1 2-6-10-3-10-5 2 1 6 1-2-3 4 4 12-5-9-1 2-1 11 3 3-2-19 29 24 1-10"/><path class="p9" d="M1531 1228l1-1 1-6-31 2-4 0-3 1-2 0 32-3-27-1 34-11-10-1-7 0-3-2 2 2-1-1 3-1-1 2 3-1-2 3"/><path class="p2" d="M1477 1208l1 2-1-2 0 0 1 0-1-2 0 2 0 2 4 3-1-1 1 0 0 2 2 0 0 3 0 1 1-1 0 1 0 1 0 0 0 0 2 0-2-2 0 1 0-1-6-5-1 0-5 0 7-5-1 0-1-1-25-63 24 65 1-1 0 1-1 0-1-1-3 1 0-1 20 20-3-3-5-8-5-7 0-6 2 5 1-1 1-4 2 6-1 4 1-13 1 1-1 2-3 0-2-4-7-2-8 27 3 1 3 4 0-5 0 1-1 7 3-2"/><path class="p5" d="M1484 1221l2 1 0 0-2-1-1-1-1 0 2 0 0 1"/><path class="p4" d="M1483 1225l-1 1 3 3-3-10 3 0 0 3-2-10-1 8 3 5 1-3-2 2 2 0 1 3 4 2 0-4-1 3-2-2 3 3-12-19 1-2 0 1-2-2 0-1 0-2 4 10 0 9"/><path class="p7" d="M1493 1220l0 0 0 1 2 1-1 1-1 1 0 2 1 0-5-2 1 0 0 0 1 1 1 0 1 1 1 0 3 1 2-1"/><path class="p1" d="M1476 1211l0 1 0-1 0 0 0 1 0-1 1 0 0 0 0 0-2-1 1 1 2 0-4 1 0 1-4-3-3 1 0 3 5-1 3 0-1 1-1 0-4-1-1 0 2 2 1-2 1 2 2 2 1 1 2-1"/><path class="p6" d="M1490 1222l1 0-2-1 0 1-2 0 2 0 0-1 1 0-1 0-1 0 0 1 0-2 8 7 0-1 0-4-7 1-1 0 1 0-1 0 1-1-1 0-2-1 1 1 0-1-1 0 2 0-1 0-1 0 1-2 0 3-2-1-1 0 0 1-1 0 1 0 3 2 0-5 2-3-3-3 0 3-1-1 3 3-1 2 2 1-1-2-14 4-1-1 1 1 29 2 0 0-5-1 0 1 2-2 5 0-2-3-19 2 1 2 6-1-1 0 1-1-2 0 1 0-1 0-1 1 0 0 0 1-2 0 0-1 0 4-2-2 3-1 2 4-3-1-1-3-1 2-8-3"/></g></g><clipPath id="kc46"><rect x="1561" y="1112" width="127" height="127"/></clipPath><g transform="scale(.5)"><g clip-path="url(#kc46)"><path class="p5" d="M1604 1223l-3-1 18 2-4 4-5 0-4-2-5 3-5-1-4 2 66 2-11-14-2 0-2 0-2 0-3 2-2 1-2 0-2 0-3 0-2 0-2-2-2 1-2 0-3 0-2-1-2 1-2 7-3-5-2 0-2 0-2 1-2 0-3 1-2 0-2 0-2 0-3 0 67 0-4-2-4 0-4-2-4 0-4 0-4 0-4-1-4-1-4 2 15 5-2-3-2-2-3 1-2-2-2 0-2 1-3 2-2 1-2 3-3 4-2-1-2 0"/><path class="p2" d="M1627 1211l-2-1 33-2-3 0-45 2-4 0-4 0-3 0-4-2-4 1 67-2-2 0-2 1-65 11 68 5-2 4-2-3-2-2-2 1-2 1-2 0-2-3-2 1-2 1-2-5-2-1-2 5-41-13-3 0 68 1-2 1-2 0-2-1-2-1-2-65-32 56-2 2-2-1-2 2-3 0-2 3-2 2-2 2-2 0-2-3-2 0-2 3-3 1 67-1-4 1-5 0-5 2-4-2-5 0-5 2 26 3-3-4 5-10-2 1-3 3-2 1-3 6-2 1-3 0-2 7-2 1-3 0-2 5-3 1-2 1-2-1-3 3-2-6-3-5-2-7-3 3-2-1-2-2-3-4-2-2-3-5-2 7-3-4-2 0-2-6 67-2-2 0-2 5-2-3-3 1-2 1-2-7-3 10-2 0-2 7 12 7-6 5-6-4-5-8-6 2-6-5-6-5-5 2-6 3-6-3-6 0 66-2-2 1-2 4-2 0-2-5-8 0-2-1-2 1"/><path class="p6" d="M1601 1221l-2 9-5 2-2-2 61 2-3 0-3-2-3-1-3-1-3 0-3 0-2-3-3 7-3-8-3-3-3-2-3 0-3 2-3 0 23 1-4 1-4-1-4 0-4-1-4 0-4-1-4 0-4-1-4 2-4-1-4 1 67-1-2 2-40-4-4 0-4 4-4-2-4-5-5-2-4 4 67 3-69 11 67-4-20-12-2 1-2 5-2-5-2 1-3-5-2 1-2 1-2 2-2 5-2 0-2-2-2 1"/><path class="p1" d="M1658 1212l-2-1-3 1-2-1-3 1-3 1-2-1-3 0-2 1-3-1-3 0-2-1-8-5-3 2-2 0-3-1-2 3-3-1-3 0-2 2-3 0 50-3-2-1-2 1-3 0-2-1-3-1-2 1-2 0-3 1-2 2-3 1-2 0-2-2-3 0-2 0-2 1-3-1-2 1-3-2-2 1-2 0 24 0-3 0-2 1-2-1-2-1-2 2 30 1-4-4-4 5 9-6-47 7-2 0-2-1"/><path class="p7" d="M1631 1214l27 9-2 0-2-1-2 3-3 0"/><path class="p9" d="M1609 1221l-2 1-2 1-2 1"/><path class="p8" d="M1599 1219l-3 2-3 1-2 3 8 7-3-1-3-1-2-3 67 1-2-2-2-2-2-1-3 0-2-1-2 0-2-2-3 1-2 0-2-2-2 0"/><path class="p3" d="M1651 1201l-4-3-4 2-3-1-4-3-4 0-3 3-4 1-4-1-4 1-3-1-17-7 34 19-2 0-3 3-2-6-2 2-2-3-2 0-2 2-2 4-2 0-2-5-2 0-2-6-2 4-2 0-2 1-2 1-2 0-2 1-3-1-2-1 68 0-3-2-2 0-3 1-3 0-2-4-3 0-3-1-2 1-3-1-2 2-3 3-3 1-2 1-3 0-3 0-2-4-3-2-3 0-2 4 3-11-3 4-3-1-3 1-3-3-3 0 50 2-3-2-2-1-2-4-2-2-2-2-2 0-2 2-6 33-18-16-3-4-2 3-2-2-3 0-2 0-2 3 54-3-2-1-49-4-3 3-2 1 68-1-2-1-3-3-2-1-3 2-3 3-2 3-3-1-2 0"/><path class="p4" d="M1633 1213l-2 0-2 3-3-3-2 0-2-1-2-1-2-1-2 3-2 0-2-2-2-3-2 0 11 8-3-1-3 2-2 1-3 1-3 2-2-1-3-3-3 3-2 0-3-1-3 2 68-2-3-1-2 1-3-3-3-1-2-3-3 0-3 1-3 2-2 1-3 3-3-2-2 1-3 2-3-3-3 1-2-3-3-3-3 0-2 0-3 0-3-1-2 2-3-2"/><path class="p9" d="M1634 1215l-2 1-2-1-2 1-2-1-2 0-2 0-2-1 15 5-2 0-2-1-2 0-2 0-2 0-2 0-2 0-2 0-2 1-3 0-2-1-2 0-2 1-8-4-2 0-2 1-2-1-3-2-2 0 67 2-6-1-5 2-2 5-2 4-2-1-2 1-3 0-2-1-2-1-3 4-2-2-2-1-3-3-2 3"/><path class="p2" d="M1632 1212l-2-2 13 4-4-1-4 0-3-2-4-1-4 1-4 1-4 1-4-1-3 0-4 0-4-1-4-72-4 71-4 0 68-1-2 2-2 0-2-1-2-2-2 1-2-74-2 76-2 0-2-1-3 0-45 7 67 0-2-3-3 5-2 1-2-3-3-1-2 6-3 1-2 1-3-4-2-4-3 3-2 6-3-2-2-2-3-2-2-97-2 91-3 1-2 4-3-1-2-3-3 4-2 2-3-3-2-7-3-10-2-1-3 4 48 29 21-19-2 0-2 1-3-2-2 2-2 1-3-1-2 1-2-1-3-1-2 1-2 1-3 0-2 2-2-1-3-2-2-1-2 0-3-88-2 87-2 2-3 1-2 0-2-1-3 2-2-2-2 2 34-8-3 8 15-2-4 0-5 6-4 1-4-84-4 81-4 2-5-1 28 1-3 1-4-7-3-5-3 0-3-3-4-3-3-7-3 7-4 10-3-1-3 6"/><path class="p7" d="M1648 1230h0"/><path class="p5" d="M1627 1225l-3-1-3-1 26-8-2 0-3 2-2-4-3 2-2-2-2 5-3 5-2-1-3-3-2 3-3-1-2 5-3-8-2-1-3-2-7 16-4 0-3 0-3 0-4-4 68 1-2 4-2 0-3 0-2-4-2-2"/><path class="p8" d="M1604 1227l-3 1-2-1-3 1-3 0-2 0 67 0-3-1-4 1-4-1 10-6-3 0-2 2-3 0-3 0-3 0-3 0-2 1-3 1-3 1-3-2-2-1-3 0-18-1-2 1-2 2-2-2-2 1-2 1-2-3-3 4-2 2 68-4-2 1-2-1-2-2-45-3-2 5-2 2-5-3-5 0 66 0-2 3-2 0-3-1-2-1-3-3-2 1-3-2-2 1-2-1-3 0-2 0-3 0-2 1-2 2-3 0-2-1-3 0-2 0-3 1-2 0-2 0-3 0-2 1-3-1-2 0-3 1-2 0-2 0"/><path class="p3" d="M1635 1201l-8 4-2 0-3 2-3-1-2 1-3-4-2 3-3-1-3-2 52-27-3-9-12 16-3 8-4 1-4-11-3 6-4 13-4-3-4-3-3-9 7 29-3-6-2 3-3 4-3 10-3-13-2 9-3-6-3 4-3 0-2-5-3 3 67 1-2 5-2-2-2 2-2-13-2-2-2 10-2 9-2-3-2 3 0-24-5 0-6 0-5-2-5 1-6-2-5 5-5 2"/><path class="p6" d="M1651 1219l-4 0 2 1-2 1-2 0-2 0-2 0-2 0-2-1-2 1 23 6-2-1-3 1-3 2-2-3-3 0-3 2-2 4-3 1-2-1-43-10-3 0 67 0-4 0-58 3-5-3 68 0-2 4-3-7-2-2"/><path class="p1" d="M1610 1207l-4 0-4 0-3 1-4 2 15 5-4 0-4 0-4 1 10-2-3 0-2-1-3 0-2 0-2 1-3 0-2 2 67-1-3 1-3 0-3 1-4-1"/><path class="p3" d="M1614 1206l-3-2-2 1-2 0-3 0-2 2-2 2-3-2-2-1-2-1-2-5 67-5-2 0-3 2-2 0-20 1-5 0-4-5-5 2-5 0-4 3 42-1-21 5-3 0-3 4-2 3-3 1-3 1-3 0-2-1-19 3 67-2-2-1-2-1-2-3-2 2-2-1-2 1-2 0 1-14-4 0-4-7-4-2-5 4-4 3-4 3-5 0-4 3-4 13-5-12-4 1-4 8-5 2 68-11-4-13-4-11-3 1-4 5-4 11-3 1-4-8-3-2-4-6-4 9-3-1-4 0-4-4-3 14-4 8-4 5-3 0-4-15 67 7-3-3-3 10-3-6-3-4-3 8-3 2-4-5 22 12-3 1-4 5-4-7-4-5-4-6-4-4-3 12-4-7-4 9-4 5-4 6-4-6-3-3-9-5-2 0-2-1-2 0-2 2-3 0 68 2-2 0-3-1-2 3-2 2-3-4-2 4-2-5-3-7-2-1-3 0-2 2-2 3"/><path class="p7" d="M1636 1224l-4-2-5-4-4 2-5 1-4 0-5-3-4 2-4-3-5 1-4 1 66 0-3 4-2 2-3 0-3-1-3-3-3-2-3-6-3 2-3 2 11 8-2-1-2 1"/><path class="p4" d="M1648 1204l-2 4-39 14-3 0-2-1-3 0-3-2-3 3-2 0 67-1-3-1-4 0-47-14-2 1-3-5-2 1-3 6"/><path class="p8" d="M1648 1222l-2 0-3 2-2-2-3 2-2 0-3 0-32 0-3 0-2 0-3 0-2-2 67 0-4 0-5 0-4 0-5 0-5 0 22 0-2-1-2 1-24 1-3 1-3-2-20 3 27 1-2-4-3-1-2 2-2-2-2 1-2 1-2-2-2 0-2 0-2 0-3 0-2 3-2 0"/><path class="p6" d="M1631 1223l-3-1-2 0-3-2-2 2-3 2-2-1-3-1-2 0-3-1-2 0-3 0 0 0-4 0-5 0-5 0 34 2 35 0-4-1-5 0 9 1-2 1-3-1-3-1-2 0-3 0-3-1-3 1-2 2-3 4-3-4-41-6 68 0-3-1-4 1-4 6-4 3-3 4-4 0-4-3-3 4-4-1-4 0-4 1-3-5-4 3-4-2-4-3-3 1 6-4-4-1-4 0-4-1-4 1 68 0-3 2-3 0-3 0-3 1-3 0-3-2-3 0-3-1-3 1-3-1-3 0-3 1-3 0-3 0-3 0-3 1-3 0"/><path class="p5" d="M1643 1221l-2 1-2-1-2 1-3 1-2 1-2 0-3 0-2-2 20 0-4 1-46 0"/><path class="p2" d="M1648 1216l-4 1-4 1-3-1-4-2-4-1-3 0-4 0-4-2-3 0-4-2-3 1-4 0-4 1-3-1-4 2-4-2 68 2-2 1-2 0-2-1-2 0-2-93-2 88-9 2-2 1-2 0-2 3-2 1-2-2-2 0-2 0-2 1-2-3-2 0-3 1-2 1-2-2-2 0-2 1-2-1-2 0-2 1-2-2-2 0-2-1 48 2-2 1-2-1-2-1-35 0-3 2-3-3-3 0 67 1-9 7-3-2-2-1-3-2-2 0-3-1-2 2-3 1-2 1-3-2-2 0-3-2-2-2-2 0-3 1-2-1-3 1-2 0-15-3-3 1 68 0-2-1-2 0-2 2-2 0-2 1-2-2-3-55-2 53-2 1-2 1-2 0-2 0"/><path class="p1" d="M1633 1217l-2 0-2 0-2-1-3 0-2 0-2 0-2 0-2-1-2-2-2 1-2 0-3 1-2 0-2 0-2 0-2-1-2 0-2 0-2 0-3-1 68 0-4 0-4 1"/><path class="p9" d="M1616 1221l4-3-3 1-3 1-3-1-3 0-2 0-3 0-3 1-3-1-3 0-3 0 65 5-3 0-2 2"/><path class="p7" d="M1624 1220l-2 0-2 1-3 1-2 1-2 1-2 2-2 0 46-2-3 0-3 0-2 1-3 0-2 1-3 0-2 1-3-1"/><path class="p1" d="M1644 1211l-2 1-2-1-3 0-2 1-2-1-3 0-2 0-2 0-3-1-2 1-2 0 12 1-4 1-28-3-3 1-2 3-3-1 67 0-2 1-2 0-2-1-3 0-2 2-2-2-3 2-2 2-2 1-3-1"/><path class="p9" d="M1650 1228l-4-1-4-6-30 2-3 0-4 1-3 0-3-3-3-1 22-11-6-1-5 0-6-2-6 2-6-1 68-1-3 2-2-1-3 3"/><path class="p6" d="M1602 1222l-2 0-2-1-3 1-2 0-2 0 67-1-2 0-2 0-3 0-2 1-2-2-53 7-3-1 67-4-20 1-4 0-4 0-4 0-4-1-4 0-4-1-4 1-4-1-4 0-4 0-5 0-4 0 67-2-5 3-5-1-5 0-5 1-5 0-5 0-19 2-3-5-2-3-2-3-2 3-2-1-2 3 63 2-3 1-4-2-47 4-4-1-5 1 52 2-3 0-3-1-2 1-3-2-3 0-3-3-19 2-3 2 26-1-2 0-3-1-2 0-2 0-2 0-3 1-2 0 33 1-6 0-6-1-5 4-6-2-6-1-6 4-5-1-6-3-6 2 26-3"/><path class="p8" d="M1598 1225l-3 0-2 0-2 1 67 1-3 1-2-2-3-2-29 0-4-1-5-1-5 0-5 2-5 0-5-2 66 0-2 0-2 1-21-5-3-4-2 3-2-3-34 1-3 0 67 11-6 3-5-5-6 1-5 2-6 3-5-4-6 2-6 0-5 0-6 3-5 0-6-4 68-1-4 2-3 1-3 2-3-3-4 2-3 3-3-3-4 0-3 1-3-1-3-5-4 0-3 4-3 0-4-1-3-5-3 0-3 4-4 0 64-4-3-1-3 1-4-1-3 1-4 0-3 1-4-1-10 4-4-11-3 0-3 2-4-2-3 11-4-10-3 4-4-1-3 3-4 0 0-5 68 1-25 5-3 0-3 0-2-4 34 3-5 1-6 0-6 0-6 0-5 0-6 0-9 5-3-1-2 2-2 0-2 1-3-3-2-1-2 0-3 1-2 0-2 0-3 0 67 0-5 1-4 0-5-1-5 1-5-1-5-6-4 6-5 0-5 0-5-1-4 0-5 1-5-1-5-1 67 0"/><path class="p4" d="M1647 1225l-3 1-3 3-3-10-3 0-3 3-3-10-3 8-3 5-3-3-3 2-3 0-3 3-3 2-2-4-3 3-3-2-3 3 48-19-2-2-2 1-2-2-2-1-2-2-17 10-3 9"/><path class="p2" d="M1616 1208l-2 2-2-2-3 0-2 0-2-2-3 2-2 2 46 3-3-1-3 0-3 2-3 0-3 3-3 1-3-1-3 1-3 1-3 0-3 0-3 0-3-2-3 1-3-1 51-5-2 0-59 0 56-5-3 0-3-1-3-63-4 65-3-1-3 1-3 0-4-1-28 1-4-1 48 20-2-3-2-8-3-7-2-6-3 5-2-1-3-4-2 6-3 4 12-13-3 1-3 2-3 0-2-4-3-2 6 27-5 1-5 4-5-5-5 1-5 7-5-2"/><path class="p3" d="M1626 1207l-2-6-2-1-3 1-2 1-3 0-2 2-2-4-3-1-2 1 50 5-3-1-3 0-51 11-3-1-3 2 66-4-4-94-6 80 9 5-2 0-3 3-2 1-3 4-2-2-3 1-2-1-27-9-3-3-2-4-3 3-2 10-3-7-2-1-2-1-3-6-2 2 67-10-4-10-5 2-4 6-5-2-5 4-4 12-5-9-4 2-5 11-5 3-4-19-3 24-3-10"/><path class="p5" d="M1592 1221l66 1-5 0-4-1-5-1-5 0-5 0-5 1"/></g></g><clipPath id="kc50"><rect x="764" y="1247" width="127" height="127"/></clipPath><g transform="scale(.5)"><g clip-path="url(#kc50)"><path class="p6" d="M862 1312l0-1-28 1 0 5 13-6 0 1 0-4 0-6 0-1 0-1 0-4 1-3 0 5 0 4 0 3 0-3 0-3 0-5 1 0 4 12 0 0 0-1 0 0 0-1 0 0 0 0 1 0 0-2 0-1 0 2 0 0 0 0 0 2 17 16 0-1 0-3-1-4 0 6 0 5 0-5 0 0-14-13 0-1-22-2 1 11 0-1 0 4 0 3 0 6 0 3 0-1 1-9 0 8 0-7 0-2 0-6"/><path class="p8" d="M865 1331l0-2 0-6 0-4-60-14 0 4 0 2 0-4 0 4-1-3 51-5 0 1 0-1 0 1 1 3 0 0 0 1 0 1 0 1 0 2"/><path class="p9" d="M857 1299l0-1 0 4 0-11"/><path class="p2" d="M820 1340l0 3 24-3 0 1 17-7 0-1 0-3 0 0 0 0 0 2-1 0 0-3 0 0-52-13 1-1 0 0 0 4 0 2 0 4 0-3 0 3 1 3 0-1 0-4 0 2 0-6 0-4 22 9-1 2 0 1 0 0 0 1 0 1 0-1-39 37 59-32 0-3 0 2-1-2 0-1 0 1 0 0 0-1 0 1 0-1-1-2 0 1 0-1 0 1 0 0 0 3-1-2 0 0 0 0 0-1 12-20-1 8-18 13 0-2 0-2 0 4-1-5 0 0 0 0 0-4 0 2 0-2 0 0-1 0 0-1 0-5 0-2 0 2 0 2-1 11 0 1 0-1-3 4 0-3 0-1 0 3-1-4 0-3 0 6 0 0 0 2 0-4 0-4-1 6 0 4 0-1 0-1 0-4 0-3-1 4-14 1 0 1 0-1 0 5 0 2 0 3 1 1 0-3 0-8 0-1 0-8 0 1 1-3 0-3 0-2 0 3 9-3 1 2 0 4"/><path class="p1" d="M844 1329l1-1 0-1 0 0 0-1 0 1 0 1 0 2 1-1 0 1 0 1 0 1-13 15 0-2 0-2 0-4 0 0 0 2 0 5 1 7 0-3-26-16 0 1 0-1 0 1-1-1 0 0 0-2 0 1 0-1 0 1 0-2-1 2 0 0 0-1 0-1 0-1 0 2 0-1-1 0 0 0-3 0 16-2 0 2 0-1 1 0 0 0 0-1-7-3 1 0 0-4-19-2 14 6 0 1 0 0"/><path class="p7" d="M859 1317l0-9 1 1 0-1 0-1 0-1"/><path class="p5" d="M845 1315l0 2-3 6 0-6 0-4 0-3 0-5 0-5 1-5 0 1-12 21 0 0 0-3 0-1 0 1 1-1 0-1 0 2 0-1 0 2 0 1 1 0 0-1 0-3 0-1 0 0 0-3 0 2 1 3 0-1 18 1 0-1 0-3 0 2 0-1-1 3 0 0 0 0 0 1 0 2 0-1 0 0-1 1 0 0 0-1 0 1 0-3-52 0 0 3-1 8 0 1 0-7 0 4 0-5 0-8-1 1 0-4 0 0 0 4 0 3"/><path class="p3" d="M841 1335l0 0 0-1 0 0 0 1 0 3-1-1 0 0 0 2 0 1 0 2 24-15-55 0 0 0 0-2 1 4 0-2 0 0 0 1 0-1 0-2 0 0 1 2 0 3 0 1 0-2 0 0 0 0 1-1 0-1 0 0 0-3 16 2 0 2-1-1 0 1 0 1 0-1 0 3 0-2-1-1 0-2 0 1 0 2 0-2 0 0 0 3-1-1 0 0 0 3 0 1 0-3 6-2 7-1 0-3 0-1 0 0 0 4 0 1-16 6 0 2 0-1 0 3 1 0 0 0 0 1 0 0 17-10 16 0 0 3 0 0 0 1 0-2 0 0-1-3 6-5 0 0-30 8 0 0 0-1 0 0 0 0 0 0 0 0-1 1 0-2 0 2 0 0 0 0"/><path class="p3" d="M830 1332l9-4 0 1 0-3 0 0 0-1 0 2-1 0 0 1 0 1 21 11 0-1-21-3 0 2 0 4 0 1 0-5 0-6 1 4 0 3 0 5-6-23 0 1 0 2 0 2 0-9-1 6 0 0 0 6 0-5 0-3 0 8 0-11-1-7 0 4 0-4 0 3 0 4 0 4-1-4 0-1 24 3 0-2-7 5 0 3 0-2 0-1 0 0 1 2 0 0 0 0"/><path class="p1" d="M808 1326l0 0 0-1 0-2 0-1-3 3 0 0 0 0 0 1 34 3 0 0 1 2 0 0 0-1 0 0 0 1 0-1 0-1 1 0 0 0 0 0 0 0"/><path class="p5" d="M841 1315l0-1-1-2 19 0 0-6 0 5 0 3 0 0 0-3 0 0 1-1 0 3 0 0 0-1 0 0 0-5 1 10 0-3 0-5-18-10 0 2 0 6-1 5 0 0 0-8 0-1 0-5 0-7-1 0 0-9"/><path class="p7" d="M808 1310h0"/><path class="p4" d="M839 1316l0 0-1 1 0 2 0 0 0 0 0-1 0 0-1-2 0 1 0 3 0 0 0 1-13 0 0-1-1 0 0 1 0 1 0 0 0 0 0-2 0 0-1 2 0 0 0-2 0 0 0 2 0 0 0 2-1 2 0 0 0 0 0-1-5-1 0-4 0 1 1 2 0-1 0 0 0 0 0 1 0 0 0 2 1 0 0 0 0 2 0 2 0-3 0 1"/><path class="p8" d="M829 1301l0-2-1 1 0-2 0-1 0 1 0 0 0 2 0 2-1-1 8 2 1-1 0 2 0 0 0-1 0-2 0 0 1 0 0-1 0 0 0 3 0 0 0 0 1 4 1-1 0-2 0-4 0 2 0-4 0 0 1-2 0 9 0-2 0-9 0-1 0-3 23 6 0 2 0 2-18-2 0 2 0 1 1-2 0-3 0 3 0-2 0 2 0 2 1 0 0 1 0 0 0 1 0-1 0 1 0 1 1-1 0-3 0 0 0-1-34 0 0 2 0 0-1-1 0 2 0 0 0 3 0-2 0 1 0 0-1 0"/><path class="p2" d="M834 1329l0 2 15-4 0-1 0 1 0 0 1 1 0-1 0 0 0 1 0-2 0 1 1-1 0 3-62 29 62-29 0-1 0 0 0-2 1 0 0 1 0 2-23 0-38 35 38-34 0-2-1 0 0-1 0 5 0 2 0 1 0-4-1-1 0-3 0-2 0-1 0 2 0-3-1-4 0-1 0-4 0 5 0 0 0 1 0-2-32 33 31-32 0-3 21-5 0-9 0 3 0-1-1 9 0 9 0 1 0 6 0-1 0 4-27-14 11 9 0-1 0-1 0-2 1 0 0 0 0 1 0 1 0 0 0-1 0 1 1 1 0-2 0-1 0 2 0 2 0-1 1-1-41 19 41-21-9 0 0 0 0 2 1 1 0 0 0 1 0-1 7 3 0-4 28 11 0-2 0-4 0-9-69 27 68-32 0-2 0 4-8 18 0 3 0-9 0 3 0 4 0-1 0-6 1 2 0-6 0-2 0 3 0-1"/><path class="p6" d="M818 1312l0 1-1-3-1 0 0 3 0-2 0-1 0 2 0 0 0 1 35 0 0 4 0-1 0-5-1 4 0 6 0-1 0-7 0 2 0 0 13 1 0-1 0 0 0 2-33-1 0-3 0 0 0 0 0-1 1 4"/><path class="p9" d="M864 1286l0-26-1 0 0 28 0 1 0 2 0 0 0 1-3-2 0 1 1-30 0 30 0 3 0-2 0-2 0-12 0 10 1 1 0 1 0-1 0 1 0-24-57 34 0-3-1-7 0-6 0 3 0 3 0-1 0-7 0-8 54-14 0-1 0 10 0-6-1-2 0 10 0 0 0-2 0 5 0 3 0 7-1 0"/><path class="p4" d="M818 1326l0-4 30-3 1 0 0 3 0-3 0-1 0-2 0 1 1 3 0 1 0 1-31 4 0 0 0-3 0-6 1-1"/><path class="p7" d="M853 1307l0-11 0 3 0 2 0 10 0 1 1 3 0 2 0 0 0 2 0 4 0 2 1-4 0-8 0-8 0-1 0 4 0 4 0 5 1-4-10-4 11 3-1 1 0-1"/><path class="p2" d="M841 1328l0-1 0 1 0 0-1 2 0-2 0 0 0-1 0 2 0-1 0 1-1-1 0-2 0-2 0 0 0 2 0 0 0 0-1 0 0-1-36 2 0-1-4 37 4-35 46 3 0-2 0-2 1-1 0 0 0 2 0 0 0 0 0 1 1 1 0 0 0-1 0 0 0-2 0 1 0 2 1 0 0 0 0-1 0 0-11-2 0 2 1-1 0 0 0 0 0 2-25-3 0-1 0 1 0-1 0 0-6-4 1 2 0 1 0 0 0-1 0 1 0 0 0-1 1 1 0 0 0 1 0-1 0 0 0 0 0 1 1 1 0-1 0-1 7-2 0-1 0-3 0 2 0 3-1-1 0 1 0-2 0 1-27 34 27-33-1-2 0 0 0 1 0 1"/><path class="p6" d="M845 1313l0 0 1 1 0 1 0 0 0-4 0 0 0 2 1-2 0 2 0 1 0 0 13-1 0-2 0 1-1-1-13-2 0 2-1-1 0 1-10 0 0 1 0-2 0 0 0 2 0-1 0 2 1-1 0-1 0-2 0 3 8 6 0 5 0-3 0 3-1-6 0-3 0 1 0 3 0 5 0-1-1-6 0-6 0-1 0 1 0-3 0 2 0-3-1-2 8 8 0-1 0 2 0-2 0-2 0 2 1 1 0 1 0 0 0-1 0 2 0-1 1 1 0 2 0-1 0 1 0 1 0 1 0 1 1-1-39 1 0-1 1-1"/><path class="p8" d="M856 1307l1-3 0-1 0-1 0 1 0 0 0 1-52 4 0-1 0-1 0-1 0 2-1 2 0-1 0-1 0-1 0 0 0-2 29-2 0 1 0 1 6-5 0 3 0 0 1 3-6-6 0 1 0 0 0-1 0 1 1-1 0-1 0 1 0 2 0 1 0-1 0-2 1 2 0 0"/><path class="p1" d="M833 1329l-1 0 0 0 0-2 0 1 0 0 0 0 0-1-1 1 0-1 0 0 0-1 0 1 0-1-1 0 0-1 0 1 0 0 0 0 0 0-26 0 0 1 0 1 0-2"/><path class="p5" d="M798 1315l0 1 0 1 0-1 0-1 0 0-1 1 0-1 0 1 31-2 0-1-9-15"/><path class="p3" d="M861 1327l1 2 0 0 0 2 0-2 0 0 0 0 1 1 0 3 0-2 0 1 0 3 0 1 0 0 1 3-11-10 0 0 0 2 0 0-1 1 0-1-2-3-21 3 0 2 1-3 0-1 0-1 0 0 0-1 0 1 21-5 0 1 0-1 0 1 0 1-1-1 0 0 0 1 0 1-4 5 0 4 0-3 0 3 0-5 0-5 1-6 0 4 0-3 0 8 0 3 0-1 0-8 1 4 0 2 0 6 0 7 0 3 0-4 0-3-13 3 0 4 0 2 0 3-1 1 0-3 0 1 0 0 0-7 0-4 0-3-1 8 0-4 0-7 0 6 0-7 0 6 0 2-1-4 0-3 22 1 0 0 0 0 0-4 0 8 1-3 0 0 0 2 0-2 0 2 0-9 0-4 1 0 0 1 0 5-24-1 0 2 0-1 0 0 0-2 0 2 0 0 1-1 0-2 0 1 0-3 0 1 0-1 0 3 1 4 0 0 0 0 0-1 0-4"/><path class="p9" d="M856 1286l-25 3 0-1 0 1 0 3 0 1-1-2 0 0 0-23 0 8 0 14 0-3 31 1 0-15 0 10"/><path class="p1" d="M834 1327l0 0 0 0 0 0-1-1 0 0 0 0 0 0 0 0 0 2-1-2 0-2 3 6 0-1-46 5 0 3 0 1 0-7-1-2 0 0 0 1 0 6 0 0 0-2 0-1-1-1 0-3 0-1 0-3"/><path class="p2" d="M838 1326l0-2 0 2 0 0-1-1 0 1 0 0 0-1 10-4 0 1 0-1 1 0 0-2 0-1 0 0 0-1 0 1 0-1 1 0 0 0 0-2 0 2 0 1 0 0-23 7 0 1 21 6-7-8 0 0 0 2-43 30 43-30-1 0 0 0 0 0 0 3 9 3 0 0-28-25 0 4 0 6 0 7 0-1 0-2 0-1-1-1 0-3 0 1 10-1 0-2-1 2 0 4 0 2 0 8-1 10 0-3 0-4 0-1 0 1-1 1 0-4"/><path class="p4" d="M830 1319l0 0 0-2 0 3 0-4 1 1 0 2 0 1 0-3 0-2 0 2 1-2 0-1 0-6 0 1 0 1 0 3 0-4 15 14 1-1 0 0 0 2 0 0 0 0-41-4 0-1"/><path class="p3" d="M834 1327l-7 4 0 0 0-1 1 0 0-3 0 0 0 2 0 0 0 1 1-4 0-1 0 1-11-8 0 2 0 1 0-7-29 39 54-22-13 0 0 2 0-3 1-1 0-2 0 2 0-4 0-1-8 7 0 0 0-4-1 9 0 1 0-6 0 0 0 2 0 8 0-1-1 7 0 3 0 6 0 0 0-1 0 3 0-4-1 6 0 0 0 2 24-4 0 2-17-35 0 0"/><path class="p8" d="M811 1299l0 0 1 0 0 2 0 0 0 1 0 0 0 0 29 1 0 1 0 1 0 0 0-2 0-1 1 1 0 2 0-1 0-1 20-1 0-3 0 2-1 3-29 2 0 1 0-4 0-4 1 3 0-5 0 0 0-1 0 10 0-4 0-1 1 1 0-1 0-2 0 0 0-7 0 2 0 2 1 4 0 0 12 1 0-5 0 2 0 5 0 4 0 3 1-7 0 1 0-2 0 2 0 3 0 4 0 2 1-2 0-5-13-3-1 1 0-2 0 1 0-1 0 0 0 0 0 0-10-10 1 10 0 0 0 0 0 5 0-7 0 6 0-7 1 8 0-3 0 0 37 7 0 4-33-38 0 7 0 1 0 2 1 10 0 2 0 1 0 1 0-1 0 2 1-2 10 0 0 0 0-1 0-1-1-3 0 2 0 0 0-3 0 4 0-1 0 0-1 3 0 3 0-2 0 1 0-1 0 0-1 1 0 3 0-4-2 1 0-2 0-2 0-1 0 1-1 1 0 1 0 1"/><path class="p7" d="M801 1307l1 0 0-1 0-1 0 1 0 0 0 1 1-1 10 5 0-1 0 0 0-1 0-1 0-1-1-1 0-4 0-3"/><path class="p9" d="M825 1261l0-1 0-1-12 37 0 5 0 3-1 2 0-38 0 33 45-41 0 12 0 8 0 4-1-3 0 1 0-3 0 2 0-5 0 3"/><path class="p6" d="M837 1310l0-1 0 3 0-1 0 3 0-3 0 0 1-1 0 2 0 0 0 1 0 0-3-10-1 0 0 0-28 8 0 1 0-1 0 1 0 0 0 1 0 1-1 0 0-1 0 2 0-2 0 1 0 0-1 0 0 0 0 3 0 0 0 1 0 0 0 0 58-5 0 0 0-2 0 4 0 0 0 1 1-4-13 2-1-2 0 0 5 17 0 2 0-2-26-35 0 0-1 6 0 0 0-2 0-6 0 2 13 23 0 0 6-8 0 1 1-1 0 2 0 0 0 0 0 1 0 0-23 1 0 2 0 0 0 0-1 2 0-3 0-3 0 3 0 3 0 1-6 9"/><path class="p5" d="M833 1317l0-2 1 0 0 3 0 1 0 1 0-3 0 0"/></g></g><clipPath id="kc51"><rect x="897" y="1247" width="127" height="127"/></clipPath><g transform="scale(.5)"><g clip-path="url(#kc51)"><path class="p1" d="M934 1329l-1-1 1-1-1 0 0-1 0 1 0 1 1 2 1-1-1 1 2 1-1 1 4 15-1-2 0-2-2-4 2 0 0 2 3 5 0 7 0-3-3-16 0 1 0-1-1 1-1-1 1 0 0-2 0 1 0-1 0 1-1-2-1 2 0 0-1-1 0-1 0-1 0 2 1-1-1 0 0 0 1 0-2-2 0 2 1-1-1 0 1 0 0-1 2-3 1 0-5-4 1-2 5 6-1 1 0 0"/><path class="p6" d="M923 1312l2-1 2 1 0 5-5-6-2 1-2-4 1-6 2-1 5-1 5-4 40-3-42 5-8 4 3 3-3-3-3-3 0-5 5 0 5 12 3 0-1-1 0 0 0-1-2 0-1 0 1 0 0-2 0-1 0 2 0 0-1 0 1 2-7 16-2-1 0-3 0-4-2 6 10 5-6-5 0 0 2-13 0-1 14-2-2 11-8-1 1 4-1 3-2 6-5 3 3-1 3-9 0 8-2-7 5-2-2-6"/><path class="p5" d="M932 1315l12 2-7 6 29-6-28-4 0-3 1-5-2-5-3-5 3 1-2 21 0 0 0-3-1-1-2 1 1-1 0-1-1 2 2-1-1 2 0 1 1 0-1-1 0-3-2-1 1 0 27-3-27 2-2 3 1-1 0 1 0-1 2-3 0 2 2-1-4 3 2 0 40 0-39 1-2 2 3-1-1 0 0 1 1 0-1-1 1 1 0-3-17 0 1 3-1 8 2 1-1-7 0 4 6-5 5-8-3 1 1-4 0 0 1 4 2 3"/><path class="p2" d="M937 1340l-1 3 2-3-1 1-4-7-1-1 1-3 0 0 1 0 0 2 0 0 0-3 0 0 4-13 1-1-3 0-1 4 2 2-1 4 2-3 1 3 2 3-2-1 2-4-1 2-1-6 1-4-8 9 0 2 1 1 1 0-1 1-1 1 0-1 8 37-9-32 0-3 0 2 0-2-1-1 0 1 1 0 0-1 0 1 1-1 0-2 0 1 1-1 0 1 1 0-1 3 0-2-1 0 1 0-1-1 4-20 0 8-12 13 2-2 1-2 1 4 4-5 0 0 2 0 0-4 1 2 0-2 2 0-2 0 2-1-3-5-1-2 2 2 2 2-1 11-3 1-1-1 4 4 0-3-3-1 1 3-2-4 0-3-2 6-3 0-2 2 0-4 0-4 1 6 1 4 0-1 1-1-2-4-1-3 0 4 6 1-2 1-2-1 4 5 1 2-2 3 4 1-2-3 0-8 3-1 0-8-3 1-1-3-1-3 0-2 3 3 7-3 3 2 0 4"/><path class="p3" d="M931 1335l1 0-1-1 1 0 0 1-1 3 1-1 0 0 1 2-1 1-1 2 2-15 0 0-1 0 1-2 0 4 0-2 0 0-1 1 1-1-1-2 0 0 2 2 0 3 0 1 0-2 0 0 0 0-1-1 0-1 0 0 0-3-1 2 0 2 0-1 0 1-1 1 0-1-1 3 0-2 0-1 1-2 0 1 0 2 2-2 0 0-1 3 0-1-1 0-1 3 1 1 0-3-1-2 2-1 0-3 0-1 0 0 0 4-1 1 1 6 0 2 0-1 1 3 0 0 0 0-1 1 0 0 5-10-3 0 0 3 0 0-1 1 0-2 0 0 0-3-1-5 1 0-1 8 1 0 0-1-1 0-1 0 1 0 0 0 1 1 0-2-1 2 0 0 0 0"/><path class="p8" d="M933 1331l-1-2 2-6-2-4-7-14-2 4-2 2 1-4-2 4 0-3 2-5-1 1 2-1 0 1 1 3 0 0 0 1 1 1 1 1 0 2"/><path class="p7" d="M931 1317l-5-9-1 1 0-1-1-1 0-1"/><path class="p9" d="M922 1299l0-1-1 4 1-11"/><path class="p8" d="M923 1301l0-2-1 1 0-2 1-1 1 1 1 0 0 2 0 2 0-1-1 2-1-1-1 2 1 0 0-1 1-2 0 0 0 0 0-1 0 0 0 3 0 0 0 0 4 4-2-1 1-2-4-4 1 2 0-4-1 0-2-2 1 9 2-2-1-9 3-1-3-3-1 6-3 2 0 2 5-2 1 2 0 1-1-2 0-3 0 3 1-2-1 2 1 2 1 0 0 1 0 0 0 1 0-1 0 1 1 1 0-1 0-3-2 0 1-1 0 0-1 2 0 0-1-1 0 2 0 0 0 3 1-2-2 1 0 0 1 0"/><path class="p5" d="M932 1315l0-1-3-2 26 0-3-6-1 5-7 3 3 0-2-3 1 0 47-1-55 3-1 0-6-1 7 0 15-5-20 10 1-3-11-5-5-10 6 2-3 6 7 5-4 0 0-8 0-1-2-5 8-7 0 0-3-9"/><path class="p1" d="M940 1326l-2 0 0-1 4-2-1-1-4 3 2 0 0 0 0 1-6 3 0 0 1 2-1 0 2-1 0 0 1 1 0-1-2-1 0 0 1 0 0 0 0 0"/><path class="p3" d="M931 1332l1-4-2 1 1-3-1 0 1-1 1 2-1 0 0 1 0 1 1 11 0-1 3-3 1 2-1 4 3 1 0-5 1-6-4 4 0 3 2 5-4-23 0 1-1 2 3 2 0-9-3 6 3 0 2 6-5-5 1-3 0 8-1-11-1-7 1 4 1-4 4 3 0 4-1 4 0-4-1-1 1 3-1-2-2 5-1 3 1-2 0-1 0 0 0 2-1 0 1 0"/><path class="p2" d="M934 1329l0 2-1-4 0-1 0 1-1 0 1 1-1-1 0 0 0 1 0-2 0 1 1-1 0 3 7 29-7-29-1-1 0 0-1-2 0 0 1 1 0 2-1 0 13 35-11-34 0-2 0 0 0-1 10 5-1 2-1 1-1-4-1-1 5-3 3-2 2-1-1 2 0-3-3-4 0-1-1-4 0 5 0 0 2 1 0-2-8 33 9-32 0-3 1-5-2-9-3 3-2-1 1 9 0 9 3 1-3 6 0-1-2 4-5-14-3 9 0-1 1-1 0-2-1 0 1 0 0 1 0 1 0 0 0-1 0 1-1 1 1-2 1-1 0 2 0 2 1-1-1-1 4 19-6-21 0 0 0 0 0 2 2 1 0 0-1 1 0-1 1 3-1-4 1 11 1-2-3-4 3-9 6 27-5-32 1-2 0 4-5 18 1 3 0-9 2 3 2 4-3-1-1-6 1 2-4-6 0-2-1 3-2-1"/><path class="p6" d="M925 1312l-1 1 6-3 1 0 0 3 1-2-3-1-1 2 2 0 1 1-6 0-1 4 0-1 6-5 2 4 12 6 3-1-7-7-2 2-3 0-5 1 3-1 0 0-1 2 22-1-11-3 49 0-40 0-1-1-1 4"/><path class="p7" d="M924 1310h0"/><path class="p9" d="M922 1286l0-26 0 0-1 28 0 1 0 2 0 0 0 1 2-2 0 1 0-30 1 30 0 3 0-2 0-2 0-12 0 10 0 1-1 1 0-1 0 1 0-24-2 34 2-3-1-7 1-6-1 3-1 3 0-1 0-7 0-8-1-14 1-1-1 10 1-6 0-2-2 10 1 0 0-2 2 5 1 3 1 7 1 0"/><path class="p4" d="M938 1316l-2 0-2 1 0 2-1 0 1 0 0-1-1 0 1-2 1 1-2 3 2 0 1 1-3 0 0-1 0 0 0 1-1 1-1 0 0 0 2-2-1 0 1 2 0 0 1-2-2 0 0 2-1 0-1 2-2 2 1 0-1 0 1-1 2-1 2-4 0 1-1 2-1-1 3 0 0 0-1 1 2 0 1 2-2 0-1 0 0 2 1 2-1-3 1 1"/><path class="p2" d="M934 1328l-1-1 1 1 0 0 0 2 0-2 0 0 1-1 0 2-1-1-1 1 0-1 0-2 0-2 1 0-1 2-1 0 1 0 0 0 0-1 0 2 1-1 6 37-5-35-2 3 0-2 1-2 0-1 0 0-1 2-1 0 1 0-1 1 1 1 0 0 0-1 0 0 2-2 0 1 0 2-1 0 0 0 0-1 0 0 0-2 0 2-2-1 1 0 0 0 0 2 0-3 0-1-1 1 0-1 1 0-2-4 0 2 1 1 0 0-1-1 0 1 0 0-1-1-1 1 1 0 1 1-2-1 0 0 0 0 0 1 0 1 0-1 0-1 2-2 0-1 0-3 2 2 1 3 0-1-1 1-1-2 0 1 9 34-10-33 1-2 0 0 0 1 0 1"/><path class="p3" d="M933 1327l-2 2 0 0 1 2 0-2 0 0 0 0 1 1 0 3 0-2 0 1 0 3-1 1 1 0 0 3-1-10 0 0-1 2-1 0 0 1 0-1 2-3 1 3 0 2 1-3-1-1 0-1 0 0 0-1 1 1-3-5 1 1-1-1 1 1-1 1 0-1 0 0-1 1 1 1 0 5-2 4 1-3-1 3 2-5 2-5-1-6-3 4-1-3-1 8-1 3 1-1 0-8 0 4 0 2-1 6-2 7 4 3-1-4-2-3-1 3 4 4 0 2 0 3 3 1-1-3 2 1 1 0 0-7-3-4 3-3-1 8 0-4-1-7 0 6-1-7 0 6 0 2 2-4 3-3 0 1 1 0 4 0 0-4-1 8-2-3-1 0 1 2-2-2 1 2 2-9-2-4-1 0 0 1 0 5-2-1 1 2-1-1-1 0-1-2 0 2-1 0 0-1 1-2 1 1-1-3-1 1 1-1 0 3-2 4 1 0 0 0 0-1 1-4"/><path class="p9" d="M925 1286l-4 3 0-1 1 1 1 3 0 1 0-2 0 0 1-23-1 8 1 14-1-3-2 1 1-15-1 10"/><path class="p7" d="M922 1307l0-11 0 3 1 2 0 10 0 1 2 3-1 2-2 0 1 2 0 4-2 2-1-4-2-8 1-8 3-1-1 4-1 4 3 5-1-4-1-4 4 3-1 1 0-1"/><path class="p1" d="M935 1329l-1 0 0 0 0-2 0 1 0 0 0 0 0-1 0 1 0-1 0 0 0-1 0 1 0-1 1 0-2-1 1 1 0 0 0 0 1 0 0 0-1 1 0 1 0-2"/><path class="p4" d="M933 1326l-2-4 11-3-1 0-3 3 1-3-1-1 0-2-1 1 1 3 0 1-1 1-18 4-2 0 5-3-1-6-4-1"/><path class="p8" d="M925 1307l0-3 0-1-1-1 1 1-1 0 0 1-1 4 0-1 0-1 0-1 1 2 0 2 0-1 0-1 0-1 0 0 0-2-1-2 0 1-1 1 1-5-1 3-1 0 3 3 21-6-22 1-2 0 0-1 0 1 0-1 0-1-1 1 1 2 0 1 1-1 0-2 1 2 1 0"/><path class="p6" d="M929 1313l1 0 1 1 0 1 0 0 52-4-53 0-2 2 1-2-1 2 1 1 0 0-2-1-2-2 2 1-3-1 11-2-1 2-1-1-2 1-1 0 0 1 1-2 0 0-1 2 0-1 1 2 0-1-2-1 22-2-20 3-6 6 4 5-4-3-2 3-2-6 5-3 7 1 1 3-3 5-10-1-3-6 4-6-4-1 1 1 2-3-1 2 1-3 4-2 5 8-2-1-1 2 0-2 0-2 0 2-1 1 2 1-3 0-1-1 2 2 1-1 0 1-1 2 4-1 0 1 3 1 0 1 0 1 0-1 1 1 2-1-3-1"/><path class="p5" d="M929 1315l2 1 0 1 1-1-1-1 1 0 2 1 2-1 1 1-3-2-2-1 1-15"/><path class="p9" d="M919 1261l-1-1 0-1 7 37 0 5 0 3 1 2 3-38-2 33-9-41 2 12-2 8 0 4 2-3 1 1-1-3 0 2-1-5 1 3"/><path class="p4" d="M948 1319l3 0-1-2-2 3 4-4 5 1-1 2-7 1-5-3-4-2-2 2 4-2 5-1 4-6 1 1-2 1-7 3-5-4-1 14 0-1 1 0-1 2-1 0 0 0 0-4 10-1"/><path class="p2" d="M932 1326l1-2 0 2 1 0 1-1-1 1 1 0 0-1-2-4 0 1-2-1 3 0 0-2-1-1 1 0-1-1 1 1 0-1-1 0 1 0 1-2-1 2-1 1 0 0 1 7 0 1-3 6 0-8 1 0 1 2 11 30-12-30 1 0-1 0 1 0 0 3 3 3 1 0 9-25 0 4-2 6 1 7-6-1-2-2 1-1-3-1 0-3-2 1-1-1-1-2 1 2 0 4 2 2 1 8 0 10-2-3 1-4 0-1 0 1-2 1-2-4"/><path class="p7" d="M924 1307l0 0 1-1 0-1 0 1-1 0 0 1-1-1 3 5 0-1 0 0-1-1-1-1 1-1 0-1 0-4 2-3"/><path class="p3" d="M931 1327l-1 4 0 0 1-1 0 0-1-3 0 0 0 2-1 0 1 1 0-4 0-1-1 1 3-8 0 2 0 1-2-7 9 39-7-22 4 0 0 2-1-3 0-1-1-2 0 2 1-4 0-1-7 7-1 0 3-4-1 9-2 1-1-6 0 0 0 2 2 8 1-1 2 7 5 3 3 6-1 0 1-1 0 3 0-4 2 6-2 0 0 2-2-4-4 2 5-35-1 0"/><path class="p5" d="M933 1317l1-2 1 0 0 3-1 1 0 1-2-3 0 0"/><path class="p8" d="M926 1299l-1 0 0 0 1 2 0 0-1 1 0 0 0 0-1 1 0 1 0 1 1 0-1-2 1-1-1 1-1 2 0-1 0-1 3-1 2-3-2 2 0 3-6 2-3 1 66-4-35-4-27 3 2-5 1 0 4-1 25 10-25-4-3-1 0 1 0-1-1-2-1 0-1-7-1 2-1 2 0 4 0 0 2 1 1-5-2 2 0 5 0 4-2 3 3-7 5 1 1-2-2 2 1 3-1 4-1 2-1-2-2-5-2-3 0 1 1-2 0 1 1-1 0 0 0 0 0 0 22-10-23 10 0 0-1 0-2 5 28-7-28 6 0-7-1 8 1-3 1 0 2 7 3 4 12-38 51 7-55 1-1 2-6 10-1 2-1 1-1 1 0-1-1 2 1-2 3 0 0 0-1-1 1-1 0-3 0 2-1 0 1-3 0 4 0-1 0 0-1 3 1 3 0-2 0 1 0-1 1 0 0 1 21 3-22-4-1 1 0-2 1-2 0-1-1 1-1 1 1 1 0 1"/><path class="p6" d="M928 1310l-1-1 1 3 0-1-1 3 3-3 0 0 2-1-1 2 1 0 1 1 0 0-8-10-8 0 1 0 9 8-2 1 2-1 0 1 2 0 2 1-1 1-1 0-1-1-1 2 0-2 0 1 3 0-1 0 1 0-2 3-1 0 0 1 1 0 0 0-2-5-4 0-5-2 3 4 1 0-2 1 1-4 7 2-1-2-2 0 37 17-37 2-4-2 0-35 4 0 3 6-3 0-3-2-1-6 3 2 10 23-1 0-1-8-2 1 1-1-1 2 0 0-1 0 3 1 0 0 9 1 3 2-2 0 5 0-1 2 2-3-3-3 1 3 5 3-2 1-12 9"/><path class="p1" d="M938 1327l-1 0 0 0-1 0-1-1 1 0 0 0 0 0 0 0 0 2-2-2 1-2 0 6-1-1 5 5 0 3-2 1-5-7 1-2 1 0 3 1 0 6-3 0 2-2 0-1 1-1 3-3-2-1 0-3"/></g></g><clipPath id="kc52"><rect x="1030" y="1247" width="127" height="127"/></clipPath><g transform="scale(.5)"><g clip-path="url(#kc52)"><path class="p1" d="M1069 1329l0-1-2-1 2 0 2-1 2 1-2 1-1 2 3-1 0 1 2 1-1 1 11 15 5-2-1-2-4-4-2 0-8 2-4 5 0 7 9-3-15-16 1 1-4-1-1 1 2-1-1 0 1-2 0 1-2-1 0 1 1-2 3 2 2 0-1-1-2-1 0-1 1 2 1-1 0 0 0 0 1 0 0-2 1 2 2-1-1 0 0 0 0-1-12-3 4 0-12-4 34-2-11 6 0 1-3 0"/><path class="p2" d="M1090 1340l-2 3-25-3 3 1 16-7-1-1-1-3 1 0 2 0-3 2-2 0 1-3 0 0-11-13-5-1 8 0-12 4-1 2 5 4-1-3 9 3 2 3 0-1-3-4-5 2-8-6 4-4 16 9 3 2-2 1-1 0 3 1 2 1 2-1 1 37-3-32 0-3-1 2-3-2 0-1-1 1 0 0 0-1 2 1-2-1 1-2-1 1 0-1-3 1 1 0 0 3 1-2-1 0-2 0-1-1-1-20-2 8 20 13-11-2-1-2-7 4 1-5 10 0 0 0-2-4 5 2 3-2-11 0-8 0 10-1 0-5 3-2 3 2-4 2-7 11-2 1-2-1-1 4-1-3 6-1 8 3 1-4 1-3 0 6 0 0 3 2 0-4 1-4-5 6-1 4 3-1 5-1 0-4-6-3-3 4 12 1 9 1-6-1-1 5-1 2-2 3 1 1-4-3 3-8 0-1 0-8 3 1-3-3 5-3 0-2-2 3-7-3 0 2-3 4"/><path class="p5" d="M1100 1315l-12 2 8 6-11-6 18-4 4-3-7-5 4-5-11-5 2 1 14 21 2 0 2-3-1-1-2 1-3-1-4-1 0 2-1-1 0 2 3 1 0 0-4-1 5-3 1-1-1 0-9-3 10 2-2 3-1-1-2 1-1-1 0-3-2 2 0-1 3 3 1 0-16 0 15 1-2 2 2-1 0 0 2 1 2 0 2-1 2 1-3-3 23 0-2 3-3 8-7 1 1-7 10 4 10-5-6-8 5 1-5-4-3 0-8 4 6 3"/><path class="p3" d="M1084 1335l0 0 2-1-2 0 2 1 0 3-1-1-2 0 2 2-2 1 1 2 11-15-17 0-2 0 3-2 0 4 1-2-1 0-2 1 0-1 2-2 0 0 1 2-1 3 1 1 2-2 2 0 3 0-2-1 0-1-1 0 1-3 1 2-3 2 0-1 0 1 1 1-2-1 2 3-2-2 1-1 3-2-2 1-1 2-1-2-1 0 1 3 0-1-1 0-2 3 0 1-1-3 1-2 5-1 1-3 0-1 1 0-3 4 0 1 8 6 0 2 0-1-2 3-4 0 2 0 1 1-1 0-19-10 29 0 0 3-1 0-1 1-1-2-3 0 3-3-6-5 3 0-4 8 2 0 1-1 2 0 0 0-2 0 2 0 1 1-1-2-1 2 0 0 1 0"/><path class="p8" d="M1117 1331l3-2-13-6-2-4-2-14-3 4 19 2-13-4-4 4-16-3 13-5 3 1 1-1-1 1-4 3-6 0-3 1 2 1 1 1 1 2"/><path class="p7" d="M1121 1317l-12-9 2 1 0-1-3-1 2-1"/><path class="p9" d="M1079 1299l14-1-19 4-1-11"/><path class="p6" d="M1119 1312l6-1-20 1-5 5-4-6-4 1-2-4 3-6-6-1 14-1-7-4 3-3-4 5-8 4 0 3 9-3 11-3 5-5-10 0 0 12 3 0 6-1 0 0 2-1 2 0 2 0-2 0 0-2 0-1 0 2-2 0 1 0 1 2 10 16 1-1-1-3 12-4-3 6-2 5 1-5 1 0-3-13 1-1-20-2-1 11 0-1 3 4 10 3-4 6-6 3-2-1 8-9-3 8-8-7 2-2 12-6"/><path class="p7" d="M1098 1310h0"/><path class="p3" d="M1093 1332l-9-4 2 1-1-3 3 0-2-1 1 2-1 0-4 1 1 1 18 11 11-1 2-3 2 2-4 4-6 1 5-5 1-6 5 4-6 3 1 5-32-23-5 1-2 2-2 2 2-9-1 6-2 0 3 6 6-5 8-3-7 8 4-11 3-7 3 4-3-4 1 3 8 4-6 4-4-4 4-1 0 3-3-2-4 5 1 3 1-2 0-1 0 0 0 2 3 0-1 0"/><path class="p2" d="M1083 1329l1 2-3-4 0-1 3 1-2 0 1 1-1-1 2 0-1 1 0-2 2 1 2-1-1 3 0 29-4-29 1-1 0 0 1-2-1 0-2 1 4 2 1 0 2 35 0-34-4-2 0 0 0-1 25 5 3 2-11 1-6-4 7-1 8-3-10-2 1-1-3 2-9-3 11-4-3-1-5-4 3 5-10 0-6 1-1-2 3 33 1-32 6-3 0-5 1-9 0 3-5-1-5 9-1 9 4 1 9 6-1-1-5 4-18-14 10 9 2-1 1-1 0-2 1 0 0 0 0 1 3 1 0 0 0-1-1 1 4 1 2-2-2-1-2 2 0 2 0-1-1-1-3 19 0-21-3 0 2 0 0 2 0 1 3 0-1 1 3-1-1 3-3-4 3 11-4-2 3-4 0-9 4 27 5-32 7-2-5 4-10 18-4 3-4-9-4 3 9 4 6-1-4-6-6 2-1-6-9-2 8 3 4-1"/><path class="p1" d="M1090 1326l-6 0 7-1 6-2 2-1-32 3-1 0-1 0 2 1-3 3 0 0 0 2-1 0 0-1 1 0 0 1-1-1-1-1 0 0 0 0 4 0 1 0"/><path class="p4" d="M1093 1316l-3 0-3 1 2 2 2 0 3 0-2-1 0 0-1-2-1 1 3 3 1 0 1 1-2 0-1-1 5 0 3 1-1 1 1 0 0 0-5-2-3 0 2 2 2 0-4-2-2 0-1 2 0 0 1 2 3 2-1 0 1 0-2-1 4-1-1-4 2 1 1 2 1-1 1 0 2 0 1 1 2 0 0 2 0 0-1 0-1 2 0 2-1-3-2 1"/><path class="p6" d="M1124 1312l-2 1-6-3 1 0 3 3-1-2-2-1 1 2-2 0 2 1 13 0 3 4 1-1-4-5 5 4-3 6-5-1 4-7-10 2 6 0-7 1-3-1 1 0-1 2 9-1-6-3-19 0 15 0 2-1 9 4"/><path class="p9" d="M1096 1286l-1-26-1 0-1 28-1 1 0 2 6 0 0 1-17-2-3 1-3-30-1 30 2 3 1-2-7-2 4-12-2 10 1 1 3 1 1-1 1 1-3-24-25 34 9-3-2-7 0-6 6 3 3 3-4-1-3-7 2-8 8-14-3-1-1 10 10-6 9-2-25 10 6 0 10-2-5 5-2 3 6 7 22 0"/><path class="p5" d="M1114 1315l2-1-1-2 9 0 0-6 0 5 3 3-3 0-8-3-8 0-24-1 24 3-1 0 2-1-3 0-10-5 4 10 4-3 3-5-4-10 7 2-1 6 5 5 8 0-6-8 0-1-11-5-1-7-4 0 1-9"/><path class="p8" d="M1099 1301l5-2 1 1 5-2-1-1-7 1-4 0-1 2 0 2-1-1-3 2-2-1 2 2 4 0-1-1-7-2 4 0-2 0-2-1 5 0 0 3 0 0 1 0-7 4 14-1 11-2 1-4-18 2 1-4 9 0 4-2 14 9-2-2-7-9-3-1-5-3-1 6 1 2-22 2 17-2-1 2 0 1 3-2-2-3-3 3 0-2-3 2-1 2-1 0 3 1 1 0-4 1-2-1-2 1 0 1-3-1 4-3 2 0 4-1 2 0 6 2-1 0-1-1 1 2 3 0-2 3-4-2 1 1-6 0-1 0"/><path class="p8" d="M1111 1307l-2-3 1-1-2-1 3 1 1 0 3 1-18 4-1-1-1-1 0-1 4 2-3 2 0-1 1-1-5-1 0 0 3-2 8-2-5 1-1 1-1-5-2 3-2 0 5 3 8-6-4 1 3 0-4-1 3 1 1-1 0-1 3 1-3 2 5 1 3-1-4-2 4 2-2 0"/><path class="p3" d="M1086 1327l2 2 0 0-1 2-1-2 1 0 2 0 0 1 1 3 0-2-1 1-3 3 0 1 2 0 0 3-4-10 2 0 1 2-1 0 1 1 1-1-2-3-3 3 1 2 0-3 2-1-1-1-2 0 0-1 0 1-2-5 1 1-1-1 2 1 3 1 0-1 0 0 0 1-1 1-5 5-1 4 6-3 1 3 5-5-5-5 1-6 6 4-3-3-6 8 0 3 4-1-5-8 5 4-8 2 7 6 1 7-7 3 4-4-2-3 5 3-4 4-5 2-2 3-4 1 2-3 7 1-6 0 12-7-3-4-1-3 0 8-3-4-3-7 3 6-7-7-2 6 5 2 1-4 0-3-7 1-5 0 9 0-5-4-9 8-5-3 1 0-4 2-1-2 2 2 11-9 8-4-1 0-1 1-6 5 27-1-1 2 0-1 0 0-1-2 2 2 0 0-2-1 1-2 0 1-1-3 1 1 1-1-2 3 4 4 2 0-3 0-2-1-2-4"/><path class="p4" d="M1099 1326l-1-4-5-3 1 0 0 3 2-3-1-1-1-2-1 1 1 3-1 1 3 1 5 4-7 0 2-3-6-6 7-1"/><path class="p5" d="M1102 1315l-2 1 1 1 2-1-5-1 2 0-3 1-1-1 2 1 0-2 1-1-5-15"/><path class="p7" d="M1084 1307l11-11 2 3 2 2 4 10-6 1 10 3-10 2 7 0 9 2 0 4 5 2 10-4-11-8-7-8-1-1 3 4-8 4-4 5-13-4 8-4 11 3-2 1-2-1"/><path class="p9" d="M1099 1286l-23 3 1-1 4 1 8 3-5 1-1-2 1 0-7-23-2 8 3 14-4-3 12 1-8-15 7 10"/><path class="p2" d="M1080 1328l1-1 0 1-1 0-1 2 1-2-1 0 3-1 1 2 0-1 0 1 3-1 0-2 0-2-2 0 1 2-1 0-3 0 1 0-1-1 0 2 0-1-1 37 1-35-1 3 0-2 0-2 1-1-2 0 0 2 2 0 0 0 3 1 1 1-1 0-2-1 0 0 3-2-1 1-2 2 1 0-1 0-4-1 2 0-1-2-2 2 8-1-1 0 1 0-2 2-4-3 1-1 1 1 0-1 2 0-5-4 2 2-2 1-2 0 0-1 0 1 3 0-2-1 0 1 0 0 0 1 3-1 1 0 1 0-2 1 0 1 1-1 0-1 0-2 0-1 1-3 0 2 2 3-1-1 3 1 3-2-3 1-1 34 0-33-4-2 1 0-1 1-1 1"/><path class="p1" d="M1066 1329l1 0 0 0-1-2 2 1-1 0 3 0 1-1-2 1-1-1 0 0-2-1 0 1-1-1-1 0 4-1-4 1-2 0-1 0-2 0 1 0 1 1 3 1 1-2"/><path class="p6" d="M1124 1313l-1 0 0 1-2 1-3 0-34-4 31 0 0 2-2-2 2 2-1 1 1 0 4-1-2-2 2 1 0-1-9-2-4 2 0-1-2 1-3 0 0 1 0-2-4 0 0 2-2-1 5 2 2-1 3-1-19-2 18 3 9 6-5 5-3-3-2 3-4-6 0-3 4 1 2 3 1 5 0-1-8-6-4-6-7-1 10 1-1-3-3 2 7-3-2-2 10 8 0-1-2 2 0-2-2-2 2 2 0 1 4 1-2 0-1-1-3 2-2-1 3 1 2 2-5-1 3 1-1 1 0 1 5 1-2-1-1 1-5-1 5-1"/><path class="p8" d="M1109 1299l-2 0 0 0 0 2 3 0 1 1 2 0-5 0-16 1 4 1-5 1 2 0 3-2-3-1 1 1-3 2 1-1-5-1-24-1 10-3 11 2-11 3 39 2 9 1-18-4-12-4 34 3 11-5-11 0-7-1-23 10 17-4-2-1 6 1 7-1-13-2-26 0 1-7 4 2 7 2-4 4 8 0 1 1-11-5-6 2 0 5 10 4-15 3 13-7 12 1 4-2-10 2 1 3-17 4-5 2 5-2 7-5 8-3 1 1-2-2 2 1 0-1 0 0 0 0-1 0 5-10-8 10-6 0 15 0 4 5-3-7-13 6 3-7-5 8 0-3 5 0 3 7 4 4 4-38-17 7 16 1 0 2 0 10-3 2 4 1-5 1-5-1-3 2 2-2 9 0 1 0-7-1-4-1-4-3-6 2 2 0 1-3 0 4 2-1 0 0 2 3-1 3 3-2 2 1 1-1 2 0-7 1 0 3-1-4 2 1-1-2 0-2 0-1 1 1-1 1 0 1 7 1"/><path class="p3" d="M1089 1327l4 4-1 0 0-1 1 0 1-3 0 0-2 2 0 0-2 1-17-4 1-1 2 1 9-8 0 2 0 1-10-7 8 39-3-22 11 0-1 2-1-3 1-1-1-2-2 2 0-4-2-1-9 7-3 0 6-4 3 9 10 1-5-6 0 0 3 2 2 8-6-1 0 7 0 3 0 6 5 0-5-1 2 3-7-4 2 6-3 0 1 2 5-4-7 2-6-35 4 0"/><path class="p9" d="M1081 1261l3-1-4-1-27 37 2 5 0 3-2 2 27-38 9 33-29-41-7 12 13 8 10 4-7-3 9 1 7-3-9 2-3-5-6 3"/><path class="p2" d="M1078 1326l0-2 1 2-1 0-2-1 0 1 3 0 1-1-7-4 2 1 0-1 0 0-1-2-1-1-1 0 2-1 0 1-2-1-1 0 1 0 0-2 2 2 4 1 0 0 2 7 1 1-2 6 3-8 1 0-2 2-1 30 1-30-2 0 3 0-2 0 0 3 4 3 2 0-10-25-1 4-2 6 0 7-3-1 8-2-4-1-9-1 9-3 0 1 7-1-10-2 3 2 4 4 2 2-1 8 4 10 0-3-2-4 8-1 3 1 10 1 7-4"/><path class="p5" d="M1100 1317l0-2 6 0 1 3 3 1 1 1 0-3-2 0"/><path class="p4" d="M1099 1319l-7 0 0-2 2 3 2-4 4 1-7 2 10 1-10-3 2-2 10 2-5-2-1-1 0-6-6 1-7 1 0 3-7-4 13 14 0-1 2 0 2 2 0 0-2 0-13-4-2-1"/><path class="p7" d="M1105 1307l0 0-1-1 4-1 0 1-1 0 0 1 2-1-6 5 1-1 0 0 2-1 2-1 2-1-3-1 1-4-3-3"/><path class="p1" d="M1070 1327l0 0 2 0-1 0-1-1-1 0-2 0-1 0 1 0 0 2-2-2 1-2-1 6 0-1 4 5-2 3 2 1-6-7 4-2 2 0-1 1-3 6 0 0 0-2-3-1-6-1-3-3 8-1-2-3"/><path class="p6" d="M1118 1310l1-1 0 3 1-1 2 3 0-3 1 0-1-1-4 2-1 0 1 1 0 0-32-10-13 0-4 0 47 8-3 1 0-1-3 1 0 0 1 1 1 1 1 0-3-1 3 2 1-2 2 1 1 0 0 0 0 0 0 3-1 0 1 1-1 0-1 0 18-5 3 0-12-2-7 4-2 0 2 1-1-4-6 2 3-2 2 0-9 17-2 2 5-2-37-35-7 0 5 6 0 0 4-2-1-6 9 2 25 23-1 0-7-8 4 1 3-1 2 2 3 0 2 0 5 1-4 0-3 1 3 2-9 0 3 0 14 2-7-3-1-3-2 3 8 3-5 1-1 9"/></g></g><clipPath id="kc53"><rect x="1163" y="1247" width="127" height="127"/></clipPath><g transform="scale(.5)"><g clip-path="url(#kc53)"><path class="p5" d="M1239 1315l-4 2 21 6-19-6 12-4-2-3-2-5 1-5-3-5-5 1 3 21-2 0-1-3 0-1-1 1 0-1-2-1 0 2 1-1 1 2 1 1 2 0-3-1 2-3 2-1 0 0-5-3 3 2 0 3 1-1 1 1 0-1-1-3-1 2-1-1 2 3 0 0 2 0-2 1 0 2 0-1-2 0-2 1-3 0 0-1 2 1-2-3 4 0 3 3-5 8-13 1 0-7-1 4 0-5 0-8 5 1 2-4-10 0 2 4 3 3"/><path class="p2" d="M1237 1340l2 3 10-3-8 1 5-7-2-1-2-3 1 0 4 0 0 2 0 0 0-3-3 0 4-13 3-1-5 0 0 4-1 2 12 4-2-3 10 3 0 3 4-1-8-4-3 2-10-6 7-4-4 9-4 2 0 1 2 0 0 1-2 1 0-1-58 37 64-32-4-3 0 2 2-2 2-1-1 1 3 0 0-1-2 1-1-1 0-2-1 1 0-1 2 1 1 0-1 3 1-2 0 0 2 0-2-1-25-20-1 8-3 13 1-2-12-2 0 4 5-5 5 0-1 0-2-4 4 2-3-2 3 0-6 0-1-1 9-5 13-2 4 2-2 2 1 11 0 1-14-1 9 4-1-3-2-1-3 3-12-4 3-3 5 6 8 0 9 2 2-4-5-4 1 6 10 4 10-1 5-1-10-4-5-3-1 4-8 1 4 1 3-1-13 5 0 2 1 3-3 1 2-3 4-8-2-1-1-8 13 1-9-3-9-3-4-2-8 3-3-3-2 2-4 4"/><path class="p6" d="M1235 1312l1-1 7 1-5 5 11-6-6 1 2-4 4-6-3-1-3-1 6-4-14-3 12 5 3 4 1 3 2-3 9-3-4-5-6 0-13 12 1 0 0-1-1 0 3-1-1 0-2 0 1 0 0-2 1-1 1 2-2 0-3 0-1 2-10 16-5-1 1-3-1-4 1 6-1 5-5-5 1 0 10-13 0-1-4-2 4 11-2-1 2 4-1 3 2 6 1 3-2-1 8-9-3 8 3-7-1-2 7-6"/><path class="p1" d="M1250 1329l2-1-2-1 0 0 0-1 0 1 0 1-1 2-2-1-1 1 0 1 2 1-12 15-2-2-6-2 9-4 1 0-2 2 2 5 0 7 5-3 10-16-2 1-1-1 1 1-1-1 2 0 2-2-1 1-2-1-2 1 0-2 1 2-2 0 3-1-1-1 1-1-2 2 4-1 1 0-1 0-1 0-2-2 0 2 0-1 2 0 0 0 3-1-5-3 10 0-4-4-17-2 5 6-2 1 2 0"/><path class="p7" d="M1236 1317l1-9-2 1 2-1-1-1 0-1"/><path class="p9" d="M1231 1299l-1-1-2 4-2-11"/><path class="p8" d="M1234 1331l-3-2 1-6 4-4-7-14 2 4 4 2-5-4-1 4 8-3-4-5-2 1 1-1 2 1 0 3-1 0 0 1 0 1 3 1 0 2"/><path class="p3" d="M1245 1335l0 0 0-1 6 0-3 1 3 3-4-1 4 0-4 2-3 1-3 2 8-15-15 0-1 0-3-2-5 4-2-2 8 0 0 1 1-1 1-2 0 0-1 2 6 3-3 1-1-2-2 0 4 0 2-1 0-1 3 0 1-3 2 2-6 2-1-1 1 1-5 1 1-1 0 3-3-2-2-1-3-2 1 1 2 2 1-2 3 0-1 3 0-1 1 0 3 3 4 1 1-3 2-2 7-1-2-3-3-1-3 0 0 4 2 1-10 6 3 2 1-1 3 3-2 0-6 0-1 1 1 0 27-10-22 0-2 3 2 0-3 1-1-2 2 0 3-3-24-5 2 0 16 8 4 0-2-1 1 0 4 0 1 0-2 0 2 1-1-2 3 2 2 0-1 0"/><path class="p4" d="M1227 1316l-3 0 3 1 7 2 0 0 4 0-25-1 22 0-4-2 3 1 0 3 1 0-8 1 1 0-6-1-2 0-5 1 3 1-4 0-6 0-8-2 6 0 5 2 7 0 0-2 0 0 1 2 1 0 5 2-1 2 0 0-3 0 1-1-5-1 1-4-1 1 1 2 6-1 2 0 1 0-4 1-4 0 7 2-4 0-3 0 2 2 0 2-7-3 0 1"/><path class="p9" d="M1229 1286l1-26 0 0 0 28 1 1 0 2 0 0 0 1 1-2 0 1-1-30 0 30 1 3 0-2-1-2-1-12 0 10 0 1 1 1 1-1-1 1 0-24 8 34-2-3 0-7-2-6 1 3 0 3-1-1-1-7 0-8-2-14 1-1-2 10-2-6 1-2-1 10 2 0 0-2 2 5 0 3-2 7 1 0"/><path class="p2" d="M1245 1329l2 2 2-4-2-1 3 1 0 0 0 1-6-1-2 0-4 1 4-2 0 1 3-1-1 3-38 29 39-29-2-1 0 0 0-2 2 0-1 1 2 2-1 0-58 35 59-34-1-2 0 0-2-1-6 5-5 2 13 1-4-4 11-1 4-3 0-2-4-1 4 2-5-3-12-4-9-1 10-4-3 5 2 0 8 1-4-2-56 33 62-32 5-3-3-5-1-9 1 3 3-1-10 9 3 9 5 1-5 6 6-1 4 4-27-14 5 9 2-1 0-1 0-2-1 0-1 0 2 1 0 1-1 0 1-1-1 1 1 1-1-2 2-1 2 2 2 2 3-1 0-1-38 19 34-21 2 0-1 0 0 2-2 1 0 0 5 1 1-1 9 3 2-4-9 11 5-2-7-4 1-9-53 27 52-32 8-2-3 4 15 18 3 3-1-9-5 3-5 4-7-1 3-6 10 2-5-6-9-2-3 3 3-1"/><path class="p7" d="M1242 1310h0"/><path class="p5" d="M1240 1315l-1-1-1-2-8 0 6-6 6 5-10 3-5 0-2-3 4 0 6-1 3 3 7 0 1-1 5 0-16-5 10 10 8-3-1-5-17-10-2 2 2 6 0 5-1 0 2-8-11-1 3-5 8-7 0 0-1-9"/><path class="p8" d="M1237 1301l0-2-2 1-2-2 1-1-1 1-3 0 3 2 2 2-3-1 3 2 0-1-1 2 2 0-1-1-2-2-1 0 0 0-1-1-1 0 0 3 2 0 1 0-12 4-3-1-3-2-3-4-1 2 2-4 3 0 4-2 5 9 2-2 1-9-1-1 0-3 7 6 3 2 7 2-9-2 2 2-1 1 2-2-2-3-2 3-1-2 0 2 1 2 0 0 0 1-1 0 0 1-1-1 2 1-1 1 0-1-3-3 0 0-1-1 0 0 3 2-2 0 0-1 3 2 0 0-3 3-2-2 1 1-2 0 0 0"/><path class="p3" d="M1246 1332l0-4 6 1 6-3-3 0-4-1-1 2 2 0-1 1 1 1-8 11-6-1 3-3-11 2 13 4 23 1 2-5 2-6-3 4-11 3-7 5-14-23 0 1 10 2-7 2-14-9 16 6 5 0-11 6-25-5 26-3-8 8 2-11-31-7 29 4-10-4 4 3-11 4-18 4 35-4-7-1-12 3 15-2 19 5 1 3-6-2-50-1 50 0 2 2 3 0 1 0"/><path class="p6" d="M1241 1312l-1 1-3-3 0 0 2 3 0-2-1-1 2 2-1 0-3 1 26 0-6 4-1-1 4-5-7 4 4 6 8-1 4-7-4 2 4 0-31 1 2-1 0 0 1 2-12-1 3-3 6 0 2 0-6-1 1 4"/><path class="p1" d="M1250 1326l4 0 4-1 6-2-9-1-3 3-1 0 2 0-1 1-4 3-1 0-1 2 0 0 0-1 1 0 1 1 0-1 0-1 0 0 1 0-1 0 0 0"/><path class="p3" d="M1238 1327l3 2-4 0 4 2 1-2-2 0-2 0 2 1-3 3 7-2 1 1 2 3 1 1 0 0-1 3-11-10-3 0 0 2 5 0-1 1 1-1 5-3 7 3 1 2-2-3 0-1-5-1 0 0-3-1-35 1 37-5-4 1-1-1 1 1 1 1 0-1 1 0 2 1-3 1-55 5 77 4-11-3 14 3 4-5 2-5-9-6 4 4 1-3-4 8-69 3 70-1 6-8-10 4-4 2-2 6 1 7-1 3 2-4-6-3 8 3-12 4 6 2 3 3 5 1-4-3 6 1-3 0 1-7-11-4 8-3 6 8 2-4 5-7-5 6-5-7-2 6 7 2-6-4 4-3-12 1 2 0 7 0 2-4 7 8 0-3-68 0 61 2-4-2 5 2-3-9-62-4 45 0-6 1 8 5-3-1-53 2 43-1 3 0 3-2 1 2-1 0-5-1 1-2-2 1-1-3-1 1-3-1 5 3 4 4-3 0 0 0-3-1-5-4"/><path class="p7" d="M1240 1307l-2-11 0 3-2 2-2 10-1 1 5 3 1 2-1 0 1 2-5 4 0 2 3-4 2-8 2-8-3-1 0 4-3 4 2 5 1-4 1-4-9 3 1 1 0-1"/><path class="p4" d="M1223 1326l1-4 5-3-1 0 5 3-1-3-4-1 0-2 5 1 0 3 0 1-5 1-31 4-7 0 11-3-9-6 1-1"/><path class="p8" d="M1235 1307l-1-3 2-1-1-1 0 1-1 0 1 1 0 4 0-1-1-1 1-1 0 2 2 2 0-1 0-1 0-1-2 0-2-2-5-2 4 1 0 1 4-5 0 3 0 0-5 3 2-6-5 1 0 0 1-1 3 1-2-1-1-1 1 1 0 2 0 1 1-1-1-2 0 2 1 0"/><path class="p6" d="M1239 1313l0 0 1 1-1 1-2 0 2-4-4 0 0 2 0-2 2 2 0 1 2 0-5-1-3-2 0 1 1-1 6-2-3 2-1-1 1 1 0 0-2 1-2-2 0 0 0 2 0-1 1 2 0-1 3-1 5-2-3 3 13 6-3 5-7-3-5 3 1-6 1-3 2 1 1 3 6 5 0-1-1-6 3-6 1-1-6 1 5-3 2 2-1-3-2-2-7 8 1-1-1 2 0-2-2-2 0 2 1 1 0 1 1 0-1-1-2 2 0-1 1 1 1 2-3-1-1 1-1 1 0 1 1 1 2-1-1 1 0-1 0-1"/><path class="p5" d="M1239 1315l0 1 1 1 1-1-1-1 0 0-2 1 0-1-1 1-2-2 1-1 2-15"/><path class="p2" d="M1245 1328l-1-1-4 1 2 0 1 2 2-2 1 0-2-1 1 2 1-1 0 1 6-1 0-2-3-2-2 0 2 2-2 0-3 0-1 0 0-1-1 2-2-1-38 37 36-35 3 3-2-2 1-2-3-1 0 0 0 2 1 0 3 0-3 1-2 1 1 0 2-1 0 0 0-2 0 1 0 2 1 0 2 0 2-1 3 0 1-2 3 2-5-1 2 0-1 0 4 2-7-3 1-1 0 1-1-1 2 0 4-4 1 2 1 1-1 0-3-1-2 1-1 0 2-1-3 1-1 0-4 1 2-1-1 0 0 0 2 1 1 1 2-1 0-1-4-2 3-1 1-3 0 2 1 3-3-1 1 1-3-2-3 1-30 34 33-33 0-2-1 0-2 1-2 1"/><path class="p1" d="M1254 1329l-1 0 1 0 1-2 2 1-2 0-1 0-1-1-1 1-1-1-1 0 1-1 2 1-1-1 4 0-3-1-1 1 0 0 0 0 1 0-1 0 0 1 1 1-1-2"/><path class="p9" d="M1232 1286l-2 3-1-1-1 1 1 3 0 1-1-2 1 0 0-23 0 8 0 14 1-3 3 1-1-15 0 10"/><path class="p7" d="M1232 1307l-1 0 1-1 0-1 0 1 0 0 1 1-1-1 5 5-1-1-1 0 1-1 1-1 0-1 0-1 1-4 1-3"/><path class="p1" d="M1251 1327l1 0-2 0-2 0 0-1 0 0-2 0 2 0 0 0 2 2 0-2 1-2-2 6 2-1-26 5 6 3 5 1 7-7 0-2-1 0 6 1-7 6 5 0 2-2 3-1-1-1-1-3 1-1 4-3"/><path class="p9" d="M1228 1261l-1-1 2-1-1 37 1 5-1 3 0 2-2-38 1 33 7-41-4 12 1 8 2 4 0-3-1 1-4-3-1 2 4-5 0 3"/><path class="p6" d="M1233 1310l2-1 1 3 0-1-3 3 2-3 3 0 1-1 0 2 2 0-2 1 1 0 19-10-4 0 3 0-24 8 0 1-1-1-1 1-2 0 2 1 1 1 1 0 1-1-1 2-1-2-2 1 1 0 1 0 2 0 1 3 1 0 1 1-2 0-1 0-9-5 2 0 4-2 3 4-5 0 10 1-1-4-7 2 0-2 1 0 8 17-13 2-3-2 9-35 3 0-5 6-6 0 5-2 4-6-2 2-2 23-2 0 7-8 0 1-2-1 1 2 0 0 0 0-1 1 2 0-12 1 0 2-2 0 1 0 4 2 6-3-2-3 1 3 9 3-1 1-4 9"/><path class="p8" d="M1237 1299l-1 0-1 0 2 2 0 0 1 1-1 0 0 0-5 1 0 1 1 1 0 0-1-2 2-1 0 1-1 2 1-1-1-1-13-1-2-3 0 2-1 3 19 2 7 1-4-4-6-4 18 3-5-5 2 0-5-1-2 10 11-4-1-1-2 1 2-1-1-2 2 0-1-7 0 2-8 2 4 4-5 0 8 1 2-5-6 2-1 5 8 4-2 3 0-7-5 1 7-2-9 2 5 3 1 4 2 2-8-2-6-5 0-3-2 1 0-2 1 1 1-1 0 0-1 0-1 0 5-10-8 10-4 0-3 0 6 5 9-7-18 6-5-7-1 8 2-3-9 0 6 7 10 4 19-38-11 7 12 1-1 2-8 10 0 2 1 1-3 1-1-1 1 2 0-2-1 0-1 0-1-1-3-1-3-3-2 2 5 0 0-3 0 4-1-1 1 0-1 3 4 3-1-2 1 1 1-1 1 0-1 1 4 3-5-4 2 1-2-2-1-2-2-1-1 1 1 1 1 1-3 1"/><path class="p4" d="M1229 1319l6 0-1-2 3 3 3-4-16 1-6 2 29 1 8-3-1-2 2 2 12-2-7-1 1-6 5 1 2 1-18 3-12-4-15 14 4-1-2 0-6 2 2 0-5 0-22-4 7-1"/><path class="p2" d="M1248 1326l1-2-3 2 0 0 0-1 3 1-1 0 0-1 0-4 0 1 1-1 3 0 2-2-1-1-5 0-1-1 1 1-1-1-4 0-2 0 1-2 0 2 3 1 2 0 0 7 1 1 1 6-10-8-2 0 2 2-40 30 37-30 2 0-1 0 0 0 2 3 1 3 1 0 9-25 11 4-3 6 5 7-9-1-1-2-1-1 6-1 6-3 0 1-34-1-3-2-6 2 2 4-6 2-9 8 43 10-7-3 5-4 10-1 5 1 1 1-6-4"/><path class="p3" d="M1224 1327l3 4-1 0 2-1-2 0 2-3-2 0 4 2 5 0-5 1 29-4 1-1-6 1-4-8-4 2 2 1 4-7-55 39 46-22-10 0 2 2 6-3-2-1 0-2 0 2-2-4 1-1 25 7 3 0 0-4-3 9-7 1-4-6-13 0 4 2 13 8 8-1 0 7 0 3-26 6-1 0-7-1 13 3-1-4-2 6-6 0-7 2-5-4 8 2-46-35 18 0"/><path class="p5" d="M1238 1317l0-2 1 0 2 3 0 1-3 1-1-3 1 0"/></g></g><clipPath id="kc54"><rect x="1296" y="1247" width="127" height="127"/></clipPath><g transform="scale(.5)"><g clip-path="url(#kc54)"><path class="p1" d="M1326 1329l0-1 0-1 0 0 0-1-1 1 0 1 0 2 0-1 1 1 0 1 0 1 5 15-2-2 0-2 1-4-3 0 1 2 0 5-1 7-1-3 3-16 1 1-1-1 0 1 1-1 1 0-1-2 0 1-1-1-2 1 0-2 0 2 1 0 0-1 0-1-1-1 1 2-1-1 2 0 0 0-1 0 0-2 0 2-1-1 1 0 1 0-2-1 0-3 3 0-5-4 6-2-6 6 0 1 0 0"/><path class="p7" d="M1323 1317l-7-9 0 1 0-1-2-1 0-1"/><path class="p8" d="M1320 1331l-2-2-1-6-3-4-7-14 2 4 0 2 3-4 0 4 1-3 2-5 0 1 0-1 1 1 1 3 1 0 0 1-1 1 2 1 0 2"/><path class="p6" d="M1317 1312l-7-1-2 1 2 5-3-6 1 1 2-4 0-6 1-1 0-1 1-4 1-3-5 5 7 4 3 3 1-3 0-3-2-5 0 0-1 12 0 0 0-1 1 0 0-1 0 0 1 0 0 0 1-2-1-1 1 2-1 0 0 0-1 2 3 16 0-1-4-3 3-4 4 6 1 5-3-5-2 0-10-13 3-1 11-2-1 11-5-1 5 4-1 3 5 6-1 3-1-1-2-9-5 8 0-7 2-2-1-6"/><path class="p5" d="M1316 1315l1 2-2 6-3-6-1-4 2-3-3-5 1-5-2-5-2 1 13 21 0 0 0-3 0-1-2 1 0-1 0-1 0 2 0-1 0 2 1 1 0 0 0-1 0-3 0-1 0 0-7-3 5 2 0 3 0-1-1 1-1-1-1-3 1 2 0-1-1 3 1 0 0 0 2 1-1 2 2-1 0 0 0 1 1 0 0-1 1 1-1-3-5 0 3 3 1 8 0 1 1-7 0 4 0-5-3-8 0 1-3-4-4 0 1 4 0 3"/><path class="p2" d="M1327 1340l1 3 1-3 0 1-1-7 0-1 0-3-1 0 2 0 0 2 1 0 0-3-1 0-10-13-5-1-3 0 3 4 2 2-1 4-1-3 0 3 3 3-2-1 0-4 5 2 0-6-5-4 12 9 0 2 0 1-2 0 1 1 0 1 1-1 59 37-51-32-1-3 1 2-2-2-1-1-2 1-2 0-1-1 0 1 2-1 0-2-2 1-1-1 0 1-1 0 0 3-1-2 2 0-1 0-1-1-3-20 4 8 9 13-1-2-3-2-1 4-5-5-1 0 0 0-7-4 0 2-1-2-4 0-1 0 0-1 0-5-3-2 6 2 5 2 6 11-3 1 1-1 2 4 4-3 1-1 5 3-7-4 4-3 0 6 5 0 2 2 0-4-5-4 4 6-2 4-1-1 7-1-9-4-1-3-5 4-7 1-4 1 3-1 8 5-2 2 4 3 5 1-2-3-2-8 2-1 0-8 2 1-1-3-4-3 0-2 5 3 0-3 1 2-1 4"/><path class="p3" d="M1335 1335l3 0-1-1 0 0 3 1 0 3-2-1-2 0 1 2-1 1 2 2 6-15-18 0 1 0-4-2 6 4-1-2 2 0 0 1-2-1-3-2 0 0 4 2 0 3 5 1-3-2 0 0-1 0-1-1 0-1-1 0 1-3 1 2 0 2 2-1-1 1 0 1 0-1 3 3 0-2 1-1 0-2 1 1-2 2-3-2-1 0-1 3 0-1 0 0 4 3 1 1 1-3-4-2 10-1-4-3 1-1-1 0 3 4 0 1-2 6 2 2 1-1 3 3 2 0 2 0 0 1-2 0-30-10 15 0 3 3-2 0 2 1 0-2-1 0-2-3 3-5 1 0 3 8-3 0-1-1 2 0 0 0 3 0 1 0-2 1-3-2-3 2 2 0 0 0"/><path class="p9" d="M1318 1299l-1-1-1 4-1-11"/><path class="p7" d="M1309 1310h0"/><path class="p3" d="M1335 1332l-4-4 1 1-2-3 1 0-1-1 4 2-3 0 1 1 2 1 24 11 8-1-15-3-7 2-1 4 11 1-6-5-12-6 3 4 3 3 7 5-25-23 6 1-4 2-3 2-9-9 12 6-8 0 4 6-2-5-1-3 5 8-3-11 0-7-5 4 1-4-1 3 11 4 2 4-9-4-7-1 2 3-3-2 22 5 0 3-1-2 3-1-2 0 2 2-4 0-2 0"/><path class="p4" d="M1325 1316l0 0-3 1 3 2 0 0 1 0 0-1 1 0-2-2-1 1 2 3 3 0 0 1-7 0 1-1-2 0-1 1-1 1-1 0 0 0 3-2-2 0-1 2 1 0-1-2 1 0 1 2 0 0 2 2 1 2 3 0 0 0-1-1-2-1-1-4-3 1 2 2-1-1-1 0 2 0-1 1 3 0 2 2 0 0 1 0-1 2 1 2-1-3 1 1"/><path class="p9" d="M1323 1286l-1-26 1 0-1 28 1 1 0 2 0 0 1 1-5-2 1 1 0-30 1 30-1 3 0-2 0-2 0-12 0 10-1 1 0 1 1-1 0 1 0-24 3 34 0-3-1-7 1-6 1 3 1 3-2-1 1-7-2-8-5-14-3-1 1 10-1-6 0-2 1 10 1 0-4-2 2 5 1 3 2 7-2 0"/><path class="p8" d="M1312 1301l-1-2 1 1-1-2 0-1 1 1-1 0 1 2-1 2 1-1 6 2 0-1-2 2-1 0 1-1 0-2-1 0-1 0 0-1-1 0 2 3 1 0 0 0 1 4-1-1-2-2 2-4-2 2 0-4 2 0-3-2-2 9 4-2-1-9 0-1 2-3 3 6-4 2-2 2 2-2 1 2 0 1-3-2 0-3 1 3 0-2 3 2 0 2 1 0 0 1 0 0 0 1 0-1 0 1-1 1-1-1 0-3 1 0-1-1 0 0 0 2-1 0 1-1 0 2-1 0 1 3 0-2-1 1 0 0 0 0"/><path class="p1" d="M1330 1326l0 0 0-1-1-2-1-1-5 3 0 0 0 0-1 1 2 3 0 0 1 2 0 0-1-1 0 0-1 1-1-1 1-1-1 0 0 0-1 0 1 0"/><path class="p2" d="M1326 1329l1 2-3-4 1-1 0 1 2 0 0 1 0-1-1 0-1 1 1-2 0 1 0-1 0 3 65 29-64-29 0-1 1 0-1-2 0 0 1 1 1 2-1 0 67 35-69-34 0-2 1 0 0-1-6 5 0 2 3 1-5-4-1-1 3-3 1-2-5-1-1 2-1-3 3-4 4-1-3-4-5 5 2 0 2 1 1-2 87 33-81-32-1-3-4-5 1-9 2 3-3-1-1 9 2 9 7 1 8 6 1-1-3 4-26-14 17 9 0-1-1-1 1-2-1 0-1 0 1 1-1 1 1 0 0-1 0 1-1 1 0-2-2-1 1 2 2 2 1-1 0-1 78 19-78-21-1 0-2 0 1 2 0 1-1 0 2 1-2-1 8 3-8-4 2 11 0-2-6-4 0-9 75 27-73-32-1-2 0 4-1 18-1 3 7-9 5 3-1 4 3-1 3-6 6 2-7-6-8-2 0 3-4-1"/><path class="p5" d="M1314 1315l0-1 2-2 7 0 0-6-2 5 3 3-1 0 2-3-4 0-5-1 0 3 3 0-3-1 2 0-5-5 7 10 1-3 2-5-15-10 1 2 0 6 0 5 3 0-1-8-3-1-1-5 0-7 4 0 2-9"/><path class="p6" d="M1319 1312l0 1-1-3-1 0 0 3 1-2 0-1-1 2 1 0 0 1-6 0 1 4-1-1-2-5 3 4 0 6-2-1-3-7-1 2 1 0 9 1-1-1 0 0 1 2-3-1 3-3-1 0-3 0 6-1 2 4"/><path class="p3" d="M1331 1327l2 2-1 0 0 2 0-2-2 0-1 0 1 1 1 3 1-2 5 1 4 3-1 1-1 0 0 3-1-10 0 0 4 2-1 0-1 1-2-1 1-3-5 3 1 2-4-3-3-1-1-1 0 0-1-1 2 1-3-5 2 1 0-1 1 1 3 1-2-1 1 0-1 1 0 1 12 5 1 4 6-3 2 3-4-5-3-5-2-6 0 4-3-3-12 8 11 3-1-1-7-8-2 4 10 2 11 6 11 7-1 3-5-4-9-3-2 3 8 4 2 2 5 3-8 1 0-3 1 1 3 0-12-7-7-4-5-3 0 8 14-4-7-7 3 6-9-7 5 6 4 2-7-4-2-3 4 1-10 0-1 0-4-4 6 8 4-3 5 0 4 2-11-2 7 2-8-9-4-4-6 0 5 1 3 5 4-1 0 2 1-1 0 0-2-2 0 2-2 0 0-1 2-2-3 1-2-3 3 1-3-1 4 3 6 4 2 0 0 0-3-1-2-4"/><path class="p8" d="M1317 1307l-1-3-1-1 1-1-1 1 0 0-1 1 1 4 0-1 0-1 0-1 1 2 1 2-1-1 1-1 0-1-1 0 1-2 0-2 1 1-2 1 0-5-1 3 2 0-3 3-1-6 4 1 0 0-2-1 2 1 0-1-1-1 2 1-1 2 1 1 0-1 0-2-3 2-1 0"/><path class="p2" d="M1322 1328l-1-1-1 1 1 0 2 2 0-2 1 0 0-1 2 2-1-1 2 1-1-1 0-2-1-2 1 0-1 2 1 0-1 0-1 0 0-1 1 2-1-1 84 37-79-35-1 3-1-2 0-2-3-1-1 0 1 2 1 0-1 0 0 1 2 1 0 0-1-1 0 0 1-2 0 1-1 2 2 0-1 0-1-1 2 0 0-2 1 2-2-1-1 0 1 0 1 2 0-3-1-1 2 1 0-1-1 0-6-4 2 2 1 1 1 0 0-1 1 1-1 0-1-1-1 1 1 0 0 1 2-1 2 0 1 0-1 1 0 1 0-1 0-1 2-2-1-1 0-3 1 2 0 3-2-1 0 1-1-2 2 1 49 34-47-33-1-2-1 0 0 1 0 1"/><path class="p1" d="M1321 1329l1 0 0 0 0-2 0 1 0 0 0 0 0-1 1 1 1-1 0 0 0-1-1 1 0-1 0 0 0-1 1 1 0 0 0 0 0 0 1 0-1 1 0 1 0-2"/><path class="p7" d="M1315 1307l1-11 4 3-1 2-1 10-1 1 3 3-1 2 2 0-1 2 0 4-1 2-3-4-2-8 0-8 1-1 3 4 2 4 4 5-1-4-2-4-7 3 0 1 0-1"/><path class="p9" d="M1318 1286l2 3-1-1-1 1 1 3 0 1 0-2 0 0-1-23 1 8 0 14 0-3-4 1 0-15-2 10"/><path class="p5" d="M1317 1315l0 1 0 1-1-1 0-1-1 0 0 1 0-1 2 1 0-2-1-1-1-15"/><path class="p4" d="M1332 1326l-2-4-14-3 0 0 1 3 1-3 1-1-2-2-1 1 2 3 0 1 0 1 13 4-1 0 5-3-2-6-5-1"/><path class="p6" d="M1316 1313l0 0 1 1 1 1-1 0-3-4 2 0 0 2 0-2 2 2 0 1-1 0 1-1 0-2-1 1 1-1-3-2 1 2 1-1 0 1-1 0-1 1 1-2 0 0 1 2 0-1 1 2-1-1-2-1-4-2 4 3 5 6 0 5 1-3-1 3-5-6-3-3-3 1-1 3 4 5-5-1 1-6 1-6-2-1 5 1-2-3 1 2 3-3-1-2 4 8 0-1 1 2 0-2-1-2 1 2-2 1-1 1 1 0-1-1 0 2 1-1 0 1 1 2 0-1 0 1 0 1 0 1 0 1 0-1 0 1-1-1-1-1"/><path class="p1" d="M1327 1327l-1 0 0 0 0 0 0-1 0 0 0 0 0 0 0 0 1 2 0-2-1-2-1 6 0-1 3 5-2 3-2 1 1-7 0-2-1 0 0 1 1 6 0 0-2-2 1-1-2-1-1-3 0-1 0-3"/><path class="p8" d="M1314 1299l0 0 0 0-1 2-1 0 0 1 1 0 2 0 0 1 1 1 1 1-1 0-1-2 0-1 1 1 1 2 0-1-1-1 4-1 3-3-2 2 2 3 0 2 0 1-10-4-3-4 5 3-1-5-2 0-3-1 4 10-2-4 0-1 0 1-3-1 1-2 3 0 1-7-2 2-1 2-2 4 3 0-1 1-3-5 2 2 0 5-1 4 2 3 4-7 0 1-4-2 0 2 1 3 5 4-1 2-2-2-1-5 4-3 1 1-1-2 1 1-1-1-1 0 0 0 1 0-4-10 10 10 0 0-2 0 2 5-10-7 9 6-3-7 0 8-3-3 1 0 4 7-1 4-4-38-1 7 0 1 4 2-2 10-1 2-1 1 1 1 0-1 0 2-1-2-3 0 0 0-2-1 0-1 0-3 2 2 1 0 0-3 0 4 0-1-1 0 0 3 0 3-1-2 1 1 0-1-1 0 2 1 4 3-5-4 0 1 0-2 1-2 0-1-1 1 1 1 1 1 0 1"/><path class="p3" d="M1330 1327l6 4 0 0-1-1-1 0 1-3-2 0 4 2 0 0-1 1-4-4 0-1 1 1-10-8 1 2-2 1 4-7 83 39-71-22-4 0-1 2-2-3-1-1-3-2 2 2-2-4 1-1 8 7 3 0 4-4-3 9-9 1 6-6 1 0 1 2 5 8-2-1 10 7 9 3-2 6-6 0 2-1-3 3-11-4 8 6-2 0-10 2-2-4 17 2-22-35 9 0"/><path class="p7" d="M1318 1307l0 0 0-1-2-1 0 1-1 0-2 1 0-1 2 5 0-1-1 0 0-1 0-1-1-1 0-1-1-4 1-3"/><path class="p2" d="M1329 1326l-2-2 2 2 0 0 1-1 1 1-2 0-2-1-2-4 1 1 0-1-2 0 0-2-3-1-1 0 1-1-1 1-1-1 0 0 1 0-1-2 2 2-1 1 1 0 4 7 0 1 1 6 4-8 0 0 1 2 56 30-58-30 1 0-1 0 0 0 1 3-1 3 1 0-18-25 3 4 7 6 6 7 6-1-5-2 1-1 4-1-5-3-5 1 12-1-1-2-1 2 0 4 3 2 2 8-24 10-1-3-4-4 5-1-1 1-6 1 2-4"/><path class="p6" d="M1316 1310l0-1 1 3-1-1 1 3 0-3 0 0 1-1-1 2 1 0-1 1 1 0-5-10 0 0 3 0-1 8 1 1-1-1 1 1 0 0 0 1 1 1 0 0 1-1 0 2-1-2 1 1-1 0 2 0-2 0 1 3-1 0 0 1 0 0 0 0-2-5 4 0 3-2 3 4-3 0 0 1-1-4-3 2 0-2 1 0-3 17 1 2-1-2-3-35 1 0 1 6-1 0 2-2-1-6 3 2-1 23-2 0 1-8 0 1 0-1 1 2-1 0 0 0 0 1 0 0-1 1 0 2 1 0-4 0 2 2 1-3-4-3 1 3 2 3-1 1 3 9"/><path class="p4" d="M1314 1319l-1 0-2-2 8 3 1-4-3 1 9 2-7 1-5-3 3-2-2 2-1-2-2-1-2-6 4 1-3 1 2 3-2-4 17 14 1-1-1 0 2 2 1 0 2 0-10-4-7-1"/><path class="p5" d="M1318 1317l-1-2 0 0 0 3 1 1 0 1 1-3-2 0"/><path class="p9" d="M1311 1261l1-1 5-1-1 37 0 5-1 3 0 2 3-38 1 33 9-41 1 12 0 8 2 4-2-3 1 1 1-3-2 2 1-5-2 3"/></g></g><clipPath id="kc56"><rect x="1561" y="1247" width="127" height="127"/></clipPath><g transform="scale(.5)"><g clip-path="url(#kc56)"><path class="p7" d="M1631 1317l27-9-2 1-2-1-2-1-3-1"/><path class="p3" d="M1651 1335l-4 0-4-1-3 0-4 1-4 3-3-1-4 0-4 2-4 1-3 2-17-15 34 0-2 0-3-2-2 4-2-2-2 0-2 1-2-1-2-2-2 0-2 2-2 3-2 1-2-2-2 0-2 0-2-1-2-1-2 0-3-3-2 2 68 2-3-1-2 1-3 1-3-1-2 3-3-2-3-1-2-2-3 1-2 2-3-2-3 0-2 3-3-1-3 0-2 3-3 1-3-3-2-2 3-1-3-3-3-1-3 0-3 4-3 1 50 6-3 2-2-1-2 3-2 0-2 0-2 1-2 0-6-10-18 0-3 3-2 0-2 1-3-2-2 0-2-3 54-5-2 0-49 8-3 0-2-1 68 0-2 0-3 0-2 0-3 1-3-2-2 2-3 0-2 0"/><path class="p6" d="M1601 1312l-2-1-5 1-2 5 61-6-3 1-3-4-3-6-3-1-3-1-3-4-2-3-3 5-3 4-3 3-3-3-3-3-3-5-3 0 23 12-4 0-4-1-4 0-4-1-4 0-4 0-4 0-4-2-4-1-4 2-4 0 67 0-2 2-40 16-4-1-4-3-4-4-4 6-5 5-4-5 67 0-69-13 67-1-20-2-2 11-2-1-2 4-2 3-3 6-2 3-2-1-2-9-2 8-2-7-2-2-2-6"/><path class="p9" d="M1609 1299l-2-1-2 4-2-11"/><path class="p8" d="M1599 1331l-3-2-3-6-2-4 8-14-3 4-3 2-2-4 67 4-2-3-2-5-2 1-3-1-2 1-2 3-2 0-3 1-2 1-2 1-2 2"/><path class="p2" d="M1627 1340l-2 3 33-3-3 1-45-7-4-1-4-3-3 0-4 0-4 2 67 0-2-3-2 0-65-13 68-1-2 0-2 4-2 2-2 4-2-3-2 3-2 3-2-1-2-4-2 2-2-6-2-4-41 9-3 2 68 1-2 0-2 1-2 1-2-1-2 37-32-32-2-3-2 2-2-2-3-1-2 1-2 0-2-1-2 1-2-1-2-2-2 1-3-1 67 1-4 0-5 3-5-2-4 0-5 0-5-1 26-20-3 8 5 13-2-2-3-2-2 4-3-5-2 0-3 0-2-4-2 2-3-2-2 0-3 0-2-1-2-5-3-2-2 2-3 2-2 11-3 1-2-1-2 4-3-3-2-1-3 3-2-4-3-3-2 6-2 0 67 2-2-4-2-4-2 6-3 4-2-1-2-1-3-4-2-3-2 4 12 1-6 1-6-1-5 5-6 2-6 3-6 1-5-3-6-8-6-1-6-8 66 1-2-3-2-3-2-2-2 3-8-3-2 2-2 4"/><path class="p5" d="M1604 1315l-3 2 18 6-4-6-5-4-4-3-5-5-5-5-4-5 66 1-11 21-2 0-2-3-2-1-3 1-2-1-2-1-2 2-3-1-2 2-2 1-2 0-2-1-3-3-2-1-2 0-2-3-3 2-2 3-2-1-2 1-2-1-3-3-2 2-2-1-2 3-3 0 67 0-4 1-4 2-4-1-4 0-4 1-4 0-4-1-4 1-4-3 15 0-2 3-2 8-3 1-2-7-2 4-2-5-3-8-2 1-2-4-3 0-2 4-2 3"/><path class="p1" d="M1658 1329l-2-1-3-1-2 0-3-1-3 1-2 1-3 2-2-1-3 1-3 1-2 1-8 15-3-2-2-2-3-4-2 0-3 2-3 5-2 7-3-3 50-16-2 1-2-1-3 1-2-1-3 0-2-2-2 1-3-1-2 1-3-2-2 2-2 0-3-1-2-1-2-1-3 2-2-1-3 0-2 0-2 0 24-2-3 2-2-1-2 0-2 0-2-1 30-3-4 0-4-4 9-2-47 6-2 1-2 0"/><path class="p2" d="M1632 1329l-2 2 13-4-4-1-4 1-3 0-4 1-4-1-4 0-4 1-4-2-3 1-4-1-4 3-4 29-4-29-4-1 68 0-2-2-2 0-2 1-2 2-2 0-2 35-2-34-2-2-2 0-3-1-45 5 67 2-2 1-3-4-2-1-2-3-3-2-2-1-3 2-2-3-3-4-2-1-3-4-2 5-3 0-2 1-3-2-2 33-2-32-3-3-2-5-3-9-2 3-3-1-2 9-3 9-2 1-3 6-2-1-3 4 48-14 21 9-2-1-2-1-3-2-2 0-2 0-3 1-2 1-2 0-3-1-2 1-2 1-3-2-2-1-2 2-3 2-2-1-2-1-3 19-2-21-2 0-3 0-2 2-2 1-3 0-2 1-2-1 34 3-3-4 15 11-4-2-5-4-4-9-4 27-4-32-4-2-5 4 28 18-3 3-4-9-3 3-3 4-3-1-4-6-3 2-3-6-4-2-3 3-3-1"/><path class="p9" d="M1634 1286l-2-26-2 0-2 28-2 1-2 2-2 0-2 1 15-2-2 1-2-30-2 30-2 3-2-2-2-2-2-12-2 10-2 1-3 1-2-1-2 1-2-24-8 34-2-3-2-7-2-6-3 3-2 3 67-1-6-7-5-8-2-14-2-1-2 10-2-6-3-2-2 10-2 0-3-2-2 5-2 3-3 7-2 0"/><path class="p1" d="M1610 1326l-4 0-4-1-3-2-4-1 15 3-4 0-4 0-4 1 10 3-3 0-2 2-3 0-2-1-2 0-3 1-2-1 67-1-3 0-3 0-3 0-4 0"/><path class="p5" d="M1627 1315l-3-1-3-2 26 0-2-6-3 5-2 3-3 0-2-3-2 0-3-1-2 3-3 0-2-1-3 0-2-5-3 10-2-3-3-5-7-10-4 2-3 6-3 5-4 0 68-8-2-1-2-5-3-7-2 0-2-9"/><path class="p3" d="M1635 1332l-8-4-2 1-3-3-3 0-2-1-3 2-2 0-3 1-3 1 52 11-3-1-12-3-3 2-4 4-4 1-3-5-4-6-4 4-4 3-3 5 7-23-3 1-2 2-3 2-3-9-3 6-2 0-3 6-3-5-3-3-2 8-3-11 67-7-2 4-2-4-2 3-2 4-2 4-2-4-2-1-2 3-2-2 0 5-5 3-6-2-5-1-5 0-6 2-5 0-5 0"/><path class="p8" d="M1604 1301l-3-2-2 1-3-2-3-1-2 1 67 0-3 2-4 2-4-1 10 2-3-1-2 2-3 0-3-1-3-2-3 0-2 0-3-1-3 0-3 3-2 0-3 0-18 4-2-1-2-2-2-4-2 2-2-4-2 0-3-2-2 9 68-2-2-9-2-1-2-3-45 6-2 2-2 2-5-2-5 2 66 1-2-2-2-3-3 3-2-2-3 2-2 2-3 0-2 1-2 0-3 1-2-1-3 1-2 1-2-1-3-3-2 0-3-1-2 0-3 2-2 0-2-1-3 2-2 0-3 3-2-2-3 1-2 0-2 0"/><path class="p6" d="M1651 1312l-4 1 2-3-2 0-2 3-2-2-2-1-2 2-2 0-2 1 23 0-2 4-3-1-3-5-2 4-3 6-3-1-2-7-3 2-2 0-43 1-3-1 67 0-4 2-58-1-5-3 68 0-2 0-3-1-2 4"/><path class="p4" d="M1633 1316l-2 0-2 1-3 2-2 0-2 0-2-1-2 0-2-2-2 1-2 3-2 0-2 1 11 0-3-1-3 0-2 1-3 1-3 0-2 0-3-2-3 0-2 2-3 0-3-2 68 0-3 2-2 0-3 2-3 2-2 0-3 0-3-1-3-1-2-4-3 1-3 2-2-1-3 0-3 0-3 1-2 0-3 2-3 0-2 0-3 2-3 2-2-3-3 1"/><path class="p7" d="M1648 1310h0"/><path class="p2" d="M1648 1328l-4-1-4 1-3 0-4 2-4-2-3 0-4-1-4 2-3-1-4 1-3-1-4-2-4-2-3 0-4 2-4 0 68 0-2 0-2-1-2 2-2-1-2 37-2-35-9 3-2-2-2-2-2-1-2 0-2 2-2 0-2 0-2 1-2 1-2 0-3-1-2 0-2-2-2 1-2 2-2 0-2 0-2-1-2 0-2-2-2 2 48-1-2 0-2 0-2 2-35-3-3-1-3 1-3-1 67 0-9-4-3 2-2 1-3 0-2-1-3 1-2 0-3-1-2 1-3 0-2 1-3-1-2 0-2 0-3 1-2 1-3-1-2-1-15-2-3-1 68-3-2 2-2 3-2-1-2 1-2-2-2 1-3 34-2-33-2-2-2 0-2 1-2 1"/><path class="p7" d="M1636 1307l-4-11-5 3-4 2-5 10-4 1-5 3-4 2-4 0-5 2-4 4 66 2-3-4-2-8-3-8-3-1-3 4-3 4-3 5-3-4-3-4 11 3-2 1-2-1"/><path class="p5" d="M1643 1315l-2 1-2 1-2-1-3-1-2 0-2 1-3-1-2 1 20-2-4-1-46-15"/><path class="p9" d="M1616 1286l4 3-3-1-3 1-3 3-3 1-2-2-3 0-3-23-3 8-3 14-3-3 65 1-3-15-2 10"/><path class="p6" d="M1631 1313l-3 0-2 1-3 1-2 0-3-4-2 0-3 2-2-2-3 2-2 1-3 0 0-1-4-2-5 1-5-1 34-2 35 2-4-1-5 1 9 0-2 1-3-2-3 0-2 2-3-1-3 2-3-1-2-1-3-2-3 3-41 6 68 5-3-3-4 3-4-6-4-3-3 1-4 3-4 5-3-1-4-6-4-6-4-1-3 1-4-3-4 2-4-3-3-2 6 8-4-1-4 2-4-2-4-2 68 2-3 1-3 1-3 0-3-1-3 2-3-1-3 1-3 2-3-1-3 1-3 1-3 1-3 1-3-1-3 1-3-1-3-1"/><path class="p3" d="M1614 1327l-3 2-2 0-2 2-3-2-2 0-2 0-3 1-2 3-2-2-2 1 67 3-2 1-3 0-2 3-20-10-5 0-4 2-5 0-5 1-4-1 42-3-21 3-3 2-3-3-2-1-3-1-3 0-3-1-2 1-19-5 67 1-2-1-2 1-2 1-2-1-2 0-2 1-2 1 1 5-4 4-4-3-4 3-5-5-4-5-4-6-5 4-4-3-4 8-5 3-4-1-4-8-5 4 68 2-4 6-4 7-3 3-4-4-4-3-3 3-4 4-3 2-4 3-4 1-3-3-4 1-4 0-3-7-4-4-4-3-3 8-4-4 67-7-3 6-3-7-3 6-3 2-3-4-3-3-4 1 22 0-3 0-4-4-4 8-4-3-4 0-4 2-3-2-4 2-4-9-4-4-4 0-4 1-3 5-9-1-2 2-2-1-2 0-2-2-3 2 68 0-2-1-3-2-2 1-2-3-3 1-2-1-2 3-3 4-2 0-3 0-2-1-2-4"/><path class="p8" d="M1648 1307l-2-3-3-1-2-1-3 1-2 0-3 1-32 4-3-1-2-1-3-1-2 2 67 2-4-1-5-1-4-1-5 0-5-2 22-2-2 1-2 1-24-5-3 3-3 0-20 3 27-6-2 1-3 0-2-1-2 1-2-1-2-1-2 1-2 2-2 1-2-1-3-2-2 2-2 0"/><path class="p1" d="M1633 1329l-2 0-2 0-2-2-3 1-2 0-2 0-2-1-2 1-2-1-2 0-2-1-3 1-2-1-2 0-2-1-2 1-2 0-2 0-2 0-3 0 68 1-4 1-4-2"/><path class="p4" d="M1648 1326l-2-4-39-3-3 0-2 3-3-3-3-1-3-2-2 1 67 3-3 1-4 1-47 4-2 0-3-3-2-6-3-1"/><path class="p2" d="M1616 1326l-2-2-2 2-3 0-2-1-2 1-3 0-2-1 46-4-3 1-3-1-3 0-3-2-3-1-3 0-3-1-3 1-3-1-3 0-3 0-3-2-3 2-3 1-3 0 51 7-2 1-59 6 56-8-3 0-3 2-3 30-4-30-3 0-3 0-3 0-4 3-28 3-4 0 48-25-2 4-2 6-3 7-2-1-3-2-2-1-3-1-2-3-3 1 12-1-3-2-3 2-3 4-2 2-3 8 6 10-5-3-5-4-5-1-5 1-5 1-5-4"/><path class="p8" d="M1598 1299l-3 0-2 0-2 2 67 0-3 1-2 0-3 0-29 1-4 1-5 1-5 0-5-2-5-1-5 1 66 2-2-1-2-1-21-1-3-3-2 2-2 3-34 2-3 1 67-4-6-4-5 3-6-5-5 0-6-1-5 10-6-4-6-1-5 1-6-1-5-2-6 0 68-7-4 2-3 2-3 4-3 0-4 1-3-5-3 2-4 5-3 4-3 3-3-7-4 1-3-2-3 2-4 3-3 4-3 2-3-2-4-5 64-3-3 1-3-2-4 1-3-1-4 0-3 0-4 0-10-10-4 10-3 0-3 0-4 5-3-7-4 6-3-7-4 8-3-3-4 0 0 7 68 4-25-38-3 7-3 1-2 2 34 10-5 2-6 1-6 1-6-1-5 2-6-2-9 0-3 0-2-1-2-1-2-3-3 2-2 0-2-3-3 4-2-1-2 0-3 3 67 3-5-2-4 1-5-1-5 0-5 1-5 3-4-4-5 1-5-2-5-2-4-1-5 1-5 1-5 1 67 1"/><path class="p7" d="M1624 1307l-2 0-2-1-3-1-2 1-2 0-2 1-2-1 46 5-3-1-3 0-2-1-3-1-2-1-3-1-2-4-3-3"/><path class="p9" d="M1650 1261l-4-1-4-1-30 37-3 5-4 3-3 2-3-38-3 33 22-41-6 12-5 8-6 4-6-3-6 1 68-3-3 2-2-5-3 3"/><path class="p4" d="M1647 1319l-3 0-3-2-3 3-3-4-3 1-3 2-3 1-3-3-3-2-3 2-3-2-3-1-3-6-2 1-3 1-3 3-3-4 48 14-2-1-2 0-2 2-2 0-2 0-17-4-3-1"/><path class="p6" d="M1602 1310l-2-1-2 3-3-1-2 3-2-3 67 0-2-1-2 2-3 0-2 1-2 0-53-10-3 0 67 0-20 8-4 1-4-1-4 1-4 0-4 1-4 1-4 0-4-1-4 2-4-2-5 1-4 0 67 0-5 0-5 3-5 0-5 1-5 0-5 0-19-5-3 0-2-2-2 4-2 0-2 1-2-4 63 2-3-2-4 0-47 17-4 2-5-2 52-35-3 0-3 6-2 0-3-2-3-6-3 2-19 23-3 0 26-8-2 1-3-1-2 2-2 0-2 0-3 1-2 0 33 1-6 2-6 0-5 0-6 2-6-3-6-3-5 3-6 3-6 1 26 9"/><path class="p3" d="M1626 1327l-2 4-2 0-3-1-2 0-3-3-2 0-2 2-3 0-2 1 50-4-3-1-3 1-51-8-3 2-3 1 66-7-4 39-6-22 9 0-2 2-3-3-2-1-3-2-2 2-3-4-2-1-27 7-3 0-2-4-3 9-2 1-3-6-2 0-2 2-3 8-2-1 67 7-4 3-5 6-4 0-5-1-5 3-4-4-5 6-4 0-5 2-5-4-4 2-3-35-3 0"/><path class="p5" d="M1592 1317l66-2-5 0-4 3-5 1-5 1-5-3-5 0"/><path class="p1" d="M1644 1327l-2 0-2 0-3 0-2-1-2 0-3 0-2 0-2 0-3 2-2-2-2-2 12 6-4-1-28 5-3 3-2 1-3-7 67-2-2 0-2 1-2 6-3 0-2-2-2-1-3-1-2-3-2-1-3-3"/></g></g><clipPath id="kc60"><rect x="764" y="1382" width="127" height="127"/></clipPath><g transform="scale(.5)"><g clip-path="url(#kc60)"><path class="p5" d="M845 1480l0 4-3-30 0 8 0 7 0 8 0 8 0 7 1 8 0-112-12 19 0 4 0 4 0 3 0 4 1 4 0 3 0 4 0 4 0 4 0 3 1 4 0 4 0 4 0 3 0 4 0 4 0 3 1 4 0 4 18 4 0 3 0 4 0 4 0 4-1 3 0 4 0-112 0 7 0 6 0 7 0 7-1 7 0 7 0 6 0 7 0 7-52-26 0 4-1 4 0 3 0 4 0 4 0 4 0 4-1 4 0 4 0 3 0 4 0 4"/><path class="p2" d="M820 1441l0 4 24-57 0 7 17 75 0 6 0 6 0 6 0 7 0 6-1-113 0 4 0 4-52 108 1-114 0 4 0 3 0 3 0 4 0 3 0 4 1 3 0 4 0 3 0 4 0 3 0 4 22 67-1 5 0-114 0 4 0 3 0 4 0 3-39 4 59 53 0 4 0 3-1 4 0 4 0 3 0 4 0 3 0 4 0 3-1 4 0 3 0 4 0-112 0 8 0 8-1 7 0 8 0 8 0 7 12-43-1 7-18-10 0 5 0 4 0 4-1 4 0 4 0 4 0 4 0 4 0 4 0 4-1 4 0 4 0 4 0 4 0 4 0 4-1 4 0 4 0 5-3 4 0 4 0 4 0 4-1 4 0 4 0 4 0 4 0-114 0 4 0 4-1 4 0 4 0 4 0 4 0 3 0 4-1 4-14-20 0 9 0 10 0 10 0 9 0 10 1 10 0 9 0 10 0 10 0 9 0-111 1 4 0 3 0 4 0 3 9 14 1 3 0 4"/><path class="p6" d="M862 1484l0 4-28 8 0 4 13-102 0 5 0 5 0 4 0 5 0 5 0 5 1 5 0 5 0 4 0 5 0 5 0 5 0 5 1 4 4-37 0 7 0 6 0 7 0 6 0 7 0 7 1 6 0 7 0 6 0 7 0 7 0-113 0 4 17 68 0 7 0 6-1 7 0 7 0 7 0 7 0-113-14 116 0-111-22 33 1 4 0 3 0 4 0 3 0 4 0 3 0 4 1 3 0 3 0 4 0 3 0 4"/><path class="p1" d="M844 1388l1 5 0 4 0 4 0 5 0 4 0 5 0 4 1 4 0 5 0 4 0 4-13 13 0 5 0 4 0 5 0 4 0 4 0 5 1 4 0 4-26-84 0 4 0 4 0 4-1 4 0 4 0 4 0 4 0 4 0 4 0 4-1 4 0 4 0 4 0 4 0 4 0 4 0 4-1 4 0 4-3 4 16-40 0 4 0 3 1 4 0 3 0 4-7-50 1 7 0 6-19-15 14 79 0 3 0 4"/><path class="p7" d="M859 1434l0-46 1 4 0 4 0 4 0 3"/><path class="p9" d="M857 1471l0 4 0 3 0 4"/><path class="p8" d="M865 1489l0 4 0 4 0 5-60-14 0 5 0 4 0 5 0-114-1 5 51 3 0 4 0 4 0 3 1 4 0 4 0 4 0 4 0 3 0 4"/><path class="p3" d="M841 1401l0 6 0 6 0 7 0 6 0 6-1 6 0 7 0 6 0 6 0 6 24 29-55-57 0 3 0 4 1 3 0 4 0 3 0 4 0 3 0 4 0 3 1 3 0 4 0 3 0 4 0 3 0 4 1 3 0 4 0 3 0 4 16 3 0-113-1 4 0 5 0 4 0 4 0 5 0 4-1 5 0 4 0 5 0 4 0 5 0 4 0 4-1 5 0 4 0 5 0 4 0 5 6 4 7-5 0 5 0 5 0 5 0 5 0 4-16-82 0 3 0 4 0 3 1 4 0 3 0 4 0 3 17 10 16 31 0 4 0 4 0 4 0 3 0 4-1 4 6-91 0 4-30 82 0 4 0 3 0-114 0 5 0 4 0 4-1 5 0 4 0 5 0 4 0 4"/><path class="p4" d="M839 1432l0 3-1 3 0 4 0 3 0 4 0 3 0 4-1 3 0 4 0 3 0 3 0 4-13-18 0 5-1 4 0 4 0 5 0 4 0 5 0 4 0 5-1 4 0 5 0 4 0-113 0 4 0 5 0 4-1 5 0 4 0 5 0 4-5 5 0 4 0 5 1 5 0 4 0 5 0 4 0 5 0 4 0 5 1 4 0 5 0 4 0 5 0 4 0 5"/><path class="p9" d="M864 1429l0 3-1 4 0 3 0 4 0 3 0 4 0 3-3-26 0 3 1 4 0 3 0 4 0 3 0 4 0 3 0 4 1 3 0 4 0 3 0 4 0 3-57 15 0 3-1 4 0 3 0 4 0 3 0-111 0 9 0 9 54 2 0 4 0 4 0 4-1 4 0 4 0 4 0 3 0 4 0 4 0 4-1 4"/><path class="p2" d="M834 1432l0 4 15-22 0 7 0 6 0 6 1 7 0 6 0 7 0 6 0 6 0 7 1 6 0 7-62 6 62 7 0 6 0-114 0 4 1 3 0 4 0 3-23 4-38 3 38 4 0 3-1 4 0 3 0 76 0-113 0 5 0 4-1 4 0 4 0 4 0 4 0 4 0 4-1 5 0 4 0 4 0 4 0 4 0 4 0 4-32 4 31 5 0 4 21 4 0 4 0 4 0 4-1 4 0 4 0 5 0 4 0 4 0 4-27-81 11-35 0 4 0 4 0 4 1 4 0 4 0 4 0 4 0 4 0 4 0 4 1 4 0 3 0 4 0 4 0 4 0 4 1 4-41 4 41 4-9 4 0 4 0 4 1 4 0 3 0 4 0 4 7-57 0 4 28-24 0 7 0 7 0 7-69 7 68 7 0 7 0 7-8-46 0 5 0 6 0 5 0 6 0 5 0 6 1 5 0 6 0 5 0 6 0 5"/><path class="p7" d="M808 1406h0"/><path class="p5" d="M841 1442l0 4-1 5 19-44 0 4 0 4 0 4 0 4 0 5 0 4 1 4 0 4 0 4 0 4 0 4 0 5 1 4 0 4 0 4-18 13 0 5 0 6-1 5 0 6 0-114 0 4 0 4 0 4-1 4 0 4"/><path class="p8" d="M829 1480l0 4-1 5 0 4 0 4 0 5 0-114 0 7 0 6-1 7 8-17 1 4 0 5 0 5 0 4 0 5 0 4 1 5 0 5 0 4 0 5 0 5 0 4 1 30 1 3 0 4 0 3 0 4 0 3 0 4 1 3 0 4 0-114 0 4 0 3 0 3 23 76 0 4 0 3-18 8 0 9 0-112 1 4 0 5 0 4 0 4 0 4 0 4 1 4 0 4 0 4 0 4 0 4 0 4 0 4 1 4 0 4 0 4 0 4-34 4 0 4 0 5-1 4 0 4 0 4 0 4 0 4 0 4 0 4-1 4"/><path class="p3" d="M830 1428l9 13 0 4 0 4 0 5 0 4 0 5-1 4 0 4 0 5 21-88 0 7-21 18 0 7 0 6 0 6 0 6 0 7 1 6 0 6 0 6-6-12 0 4 0 5 0 5 0 4-1 5 0 5 0 4 0 5 0 4 0 5 0 5-1-114 0 4 0 3 0 4 0 3 0 4-1 3 0 4 24 3 0 4-7 0 0 8 0 9 0 9 0 9 1 9 0 9 0 9"/><path class="p6" d="M818 1401l0 6-1-3-1 3 0 4 0 3 0 4 0 3 0 4 0 3 35-40 0 5 0 4 0 5-1 4 0 5 0 4 0 5 0 4 0 4 13 71 0 5 0-112 0 7-33 98 0 7 0-114 0 5 0 4 1 4"/><path class="p1" d="M808 1470l0 6 0 6 0 6 0 7-3-26 0 7 0 7 0 7 34-17 0 4 1 4 0 4 0 5 0 4 0 4 0 4 0-114 1 6 0 5 0 6 0 5"/><path class="p3" d="M861 1464l1 3 0 4 0 4 0 4 0 4 0 4 1 4 0 3 0 4 0 4 0-114 0 5 0 4 1 4-11 34 0 7 0 8 0 8-1 7 0 8-2-71-21 36 0 5 1 4 0 5 0 4 0 5 0 4 0 5 21 31 0-113 0 4 0 4 0 3-1 4 0 3 0 4 0 3-4-3 0 7 0 8 0 7 0 7 0 7 1 7 0 8 0 7 0 7 0 7 0 8 0 7 1 7 0-113 0 7 0 6 0 6 0 6 0 6-13 6 0 6 0 6 0 6-1 6 0 6 0 6 0 7 0 6 0 6 0 6-1 6 0 6 0-113 0 6 0 5 0 5 0 5-1 6 0 5 22 5 0-37 0 7 0 6 0 7 1 6 0 7 0 6 0 6 0 7 0 6 0 7 1 6 0 6 0 7-24 14 0 4 0 3 0 4 0 3 0 4 0-114 1 4 0 4 0 4 0 4 0 4 0 4 0 4 1 4 0 4 0 4 0 4 0 4"/><path class="p7" d="M853 1426l0 7 0 8 0 7 0 8 0 7 1 7 0 8 0 7 0 8 0 7 0-112 1 5 0 5 0 5 0 5 0 5 0 5 0 5 1 5-10 5 11-18-1 3 0 4"/><path class="p4" d="M818 1406l0 4 30 65 1 4 0 5 0 4 0 5 0 4 0 5 1-114 0 6 0 7-31 78 0 4 0 4 0 5 1 4"/><path class="p8" d="M856 1405l1 4 0 5 0 4 0 4 0 4 0 4-52 55 0 4 0 4 0 5 0 4-1-114 0 8 0 8 0 8 0 7 0 8 29-37 0 4 0 4 6 40 0 5 0 4 1 34-6-45 0 4 0 4 0 3 0 4 1 3 0 4 0 3 0 4 0 3 0 4 0 4 1 3 0 4"/><path class="p6" d="M845 1435l0 4 1 4 0 4 0 4 0 5 0 4 0 4 1 4 0 4 0 5 0 4 13 0 0 8 0 7-1 8-13-56 0-60-1 8 0 7-10-15 0 5 0 4 0 5 0 5 0 4 0 5 1 4 0 5 0 4 0 5 8 68 0-114 0 7 0 6-1 6 0 6 0 7 0 6 0 6 0 6-1 7 0 6 0 6 0 6 0 7 0 6 0 6-1 6 8-10 0 7 0 6 0 7 0 6 0-113 1 5 0 5 0 5 0 5 0 5 0 5 1 5 0 5 0 5 0 5 0 5 0 5 0 5 1 5-39 5 0 5 1 5"/><path class="p5" d="M798 1413l0 4 0 4 0 4 0 4 0 4-1 4 0 3 0 4 31-33 0 7-9 77"/><path class="p2" d="M841 1407l0 6 0 6 0 6-1 6 0 6 0 6 0 6 0 6 0 6 0 6-1 7 0 6 0 6 0 6 0 6 0 6 0-114-1 4 0 3-36 4 0 3-4 4 4 3 46 14 0 4 0 3 1 4 0 3 0 4 0 3 0 4 0 3 1 4 0 3 0 4 0 3 0 4 0 3 0 4 1 3 0 4 0 3 0 4-11 3 0 4 1-82 0 3 0 4 0 4-25 58 0 5 0 5 0 5 0-113-6 17 1 4 0 4 0 4 0 4 0 5 0 4 0 4 1 4 0 4 0 4 0 4 0 4 0 5 0 4 1 4 0 4 0 4 7 25 0 4 0-114 0 4 0 3-1 4 0 3 0 4 0 4-27 3 27 4-1 3 0 4 0 3 0 4"/><path class="p1" d="M833 1431l-1 4 0 3 0 4 0 3 0 4 0 3 0 4-1 4 0 3 0 4 0 3 0 4 0 3-1 4 0 3 0 4 0 4 0 3 0 4-26 3 0-114 0 8 0 7"/><path class="p9" d="M856 1460l-25-8 0 5 0 5 0 5 0 5-1 5 0 5 0 5 0 5 0 5 0 5 31-109 0 4 0 4"/><path class="p7" d="M801 1446l1 4 0 3 0 4 0 4 0 3 0 4 1 3 10-76 0 4 0 4 0 5 0 4 0 4-1 5 0 4 0 4"/><path class="p1" d="M834 1412l0 4 0 4 0 4-1 4 0 4 0 3 0 4 0 4 0 4-1 4 0 4 3-20 0 5-46 48 0 4 0 5 0 5-1-114 0 4 0 4 0 4 0 4 0 4 0 4-1 3 0 4 0 4 0 4"/><path class="p9" d="M825 1402l0 7 0 7-12 50 0 6 0 5-1 5 0 6 0 5 45-37 0 9 0 10 0 10-1 9 0 10 0-113 0 4 0 5 0 5"/><path class="p6" d="M837 1482l0 4 0 4 0 4 0 4 0 4 0-114 1 4 0 4 0 4 0 4 0 4-3 89-1 5 0-114-28 34 0 7 0 7 0 7 0 7 0 6 0 7-1 7 0 7 0 7 0 6 0 7 0 7-1-111 0 8 0 8 0 8 0 9 0 8 0 8 58 33 0 4 0 3 0 4 0 4 0 3 1 4-13-106-1 5 0 6 5 79 0 8 0 7-26-87 0 5-1 4 0 5 0 5 0 4 0 5 13 32 0 5 6-43 0 4 1 3 0 4 0 4 0 4 0 4 0 4-23-55 0 9 0 10 0 10-1 9 0 10 0 10 0 9 0 10 0 10-6-44"/><path class="p8" d="M811 1490l0 4 1 4 0 4 0-114 0 5 0 5 0 5 29 47 0 9 0 8 0 8 0 8 0 9 1 8 0-112 0 4 0 4 20 36 0 3 0 4-1 4-29 57 0 4 0-111 0 9 1 10 0 9 0 9 0 9 0 10 0 9 0 9 1 9 0 10 0 9 0 9 0-113 0 6 0 5 1 6 0 5 12 6 0 5 0 6 0 5 0 6 0 5 1 6 0 5 0 6 0 5 0 6 0 5 0 6 1 5 0 6-13-108-1 6 0 6 0 6 0 6 0 5 0 6 0 6-10 17 1 6 0 6 0 6 0 5 0 6 0 6 0 6 1 5 0 6 0 6 37 0 0-113-33 42 0 5 0 4 0 4 1-58 0 10 0 10 0 9 0 10 0 10 1 9 10 16 0 3 0 4 0 4-1 4 0 4 0 4 0 4 0 3 0 4 0 4-1 4 0-112 0 8 0 8 0 8 0 8-1 8 0 8 0 8-2 8 0 8 0 8 0 8 0 8-1 8 0 8 0-111"/><path class="p4" d="M830 1408l0 5 0 5 0 5 0 5 1 5 0 5 0 5 0 4 0 5 0 5 1 5 0 5 0 5 0 5 0 5 0 5 0 5 15-82 1 4 0 3 0 4 0 4 0 3-41 28 0 5"/><path class="p2" d="M838 1459l0 4 0 4 0 4-1 4 0 4 0 3 0 4 10-77 0 5 0 5 1 5 0 5 0 5 0 5 0 5 0 5 0 5 1 5 0 5 0 5 0 5 0 5 0 5-23-85 0 4 21 98-7-94 0 6 0 5-43 5 43 6-1 5 0 5 0 6 0 5 9 49 0 5-28-81 0 5 0 4 0 4 0 4 0 4 0 4-1 4 0 5 0 4 10-19 0 4-1 5 0 4 0 5 0 5-1-11 0 9 0 8 0 8 0 8-1 9 0 8"/><path class="p3" d="M834 1442l-7 4 0 4 0 4 1 4 0 4 0 4 0 4 0 4 0 4 1-85 0 5 0 5-11 86 0 5 0 5 0-111-29 7 54 11-13-16 0 5 0 4 1 4 0 4 0 4 0 4 0 4-8 46 0 4 0 4-1 4 0 4 0 4 0 5 0 4 0 4 0 4-1-114 0 8 0 8 0 8 0 7 0 8 0 8-1 7 0 8 0 8 24 7 0 8-17 6 0 4"/><path class="p5" d="M833 1499l0-111 1 9 0 8 0 8 0 8 0 9 0 8"/></g></g><clipPath id="kc61"><rect x="897" y="1382" width="127" height="127"/></clipPath><g transform="scale(.5)"><g clip-path="url(#kc61)"><path class="p1" d="M934 1388l-1 5 1 4-1 4 0 5 0 4 0 5 1 4 1 4-1 5 2 4-1 4 4 13-1 5 0 4-2 5 2 4 0 4 3 5 0 4 0 4-3-84 0 4 0 4-1 4-1 4 1 4 0 4 0 4 0 4 0 4-1 4-1 4 0 4-1 4 0 4 0 4 0 4 1 4-1 4 0 4 1 4-2-40 0 4 1 3-1 4 1 3 0 4 2-50 1 7-5 6 1-15 5 79-1 3 0 4"/><path class="p7" d="M931 1434l-5-46-1 4 0 4-1 4 0 3"/><path class="p8" d="M933 1489l-1 4 2 4-2 5-7-14-2 5-2 4 1 5-2-114 0 5 2 3-1 4 2 4 0 3 1 4 0 4 0 4 1 4 1 3 0 4"/><path class="p6" d="M923 1484l2 4 2 8 0 4-5-102-2 5-2 5 1 4 2 5 5 5 5 5 40 5-42 5-8 4 3 5-3 5-3 5 0 5 5 4 5-37 3 7-1 6 0 7 0 6-2 7-1 7 1 6 0 7 0 6 0 7 0 7-1-113 1 4-7 68-2 7 0 6 0 7-2 7 10 7-6 7 0-113 2 116 0-111 14 33-2 4-8 3 1 4-1 3-2 4-5 3 3 4 3 3 0 3-2 4 5 3-2 4"/><path class="p5" d="M932 1480l12 4-7-30 29 8-28 7 0 8 1 8-2 7-3 8 3-112-2 19 0 4 0 4-1 3-2 4 1 4 0 3-1 4 2 4-1 4 0 3 1 4-1 4 0 4-2 3 1 4 27 4-27 3-2 4 1 4 0 4 0 3 2 4 0 4 2 4-4 3 2 4 40-112-39 7-2 6 3 7-1 7 0 7 1 7-1 6 1 7 0 7-17-26 1 4-1 4 2 3-1 4 0 4 6 4 5 4-3 4 1 4 0 3 1 4 2 4"/><path class="p2" d="M937 1441l-1 4 2-57-1 7-4 75-1 6 1 6 0 6 1 7 0 6 0-113 0 4 0 4 4 108 1-114-3 4-1 3 2 3-1 4 2 3 1 4 2 3-2 4 2 3-1 4-1 3 1 4-8 67 0 5 1-114 1 4-1 3-1 4 0 3 8 4-9 53 0 4 0 3 0 4-1 4 0 3 1 4 0 3 0 4 1 3 0 4 0 3 1 4 0-112 1 8-1 8 0 7-1 8 1 8-1 7 4-43 0 7-12-10 2 5 1 4 1 4 4 4 0 4 2 4 0 4 1 4 0 4 2 4-2 4 2 4-3 4-1 4 2 4 2 4-1 4-3 4-1 5 4 4 0 4-3 4 1 4-2 4 0 4-2 4-3 4-2-114 0 4 0 4 1 4 1 4 0 4 1 4-2 3-1 4 0 4 6-20-2 9-2 10 4 10 1 9-2 10 4 10-2 9 0 10 3 10 0 9-3-111-1 4-1 3 0 4 3 3 7 14 3 3 0 4"/><path class="p3" d="M931 1401l1 6-1 6 1 7 0 6-1 6 1 6 0 7 1 6-1 6-1 6 2 29 0-57-1 3 1 4 0 3 0 4 0 3-1 4 1 3-1 4 0 3 2 3 0 4 0 3 0 4 0 3 0 4-1 3 0 4 0 3 0 4-1 3 0-113 0 4 0 5-1 4 0 4-1 5 0 4 0 5 1 4 0 5 0 4 2 5 0 4-1 4 0 5-1 4-1 5 1 4 0 5-1 4 2-5 0 5 0 5 0 5 0 5-1 4 1-82 0 3 0 4 1 3 0 4 0 3-1 4 0 3 5 10-3 31 0 4 0 4-1 4 0 3 0 4 0 4-1-91 1 4-1 82 1 4 0 3-1-114-1 5 1 4 0 4 1 5 0 4-1 5 0 4 0 4"/><path class="p9" d="M922 1471l0 4-1 3 1 4"/><path class="p7" d="M924 1406h0"/><path class="p3" d="M931 1428l1 13-2 4 1 4-1 5 1 4 1 5-1 4 0 4 0 5 1-88 0 7 3 18 1 7-1 6 3 6 0 6 1 7-4 6 0 6 2 6-4-12 0 4-1 5 3 5 0 4-3 5 3 5 2 4-5 5 1 4 0 5-1 5-1-114 1 4 1 3 4 4 0 3-1 4 0 3-1 4 1 3-1 4-2 0-1 8 1 9 0 9 0 9 0 9-1 9 1 9"/><path class="p4" d="M938 1432l-2 3-2 3 0 4-1 3 1 4 0 3-1 4 1 3 1 4-2 3 2 3 1 4-3-18 0 5 0 4 0 4-1 5-1 4 0 5 2 4-1 5 1 4 0 5 1 4-2-113 0 4-1 5-1 4-2 5 1 4-1 5 1 4 2 5 2 4 0 5-1 5-1 4 3 5 0 4-1 5 2 4 1 5-2 4-1 5 0 4 1 5-1 4 1 5"/><path class="p9" d="M922 1429l0 3 0 4-1 3 0 4 0 3 0 4 0 3 2-26 0 3 0 4 1 3 0 4 0 3 0 4 0 3 0 4 0 3-1 4 0 3 0 4 0 3-2 15 2 3-1 4 1 3-1 4-1 3 0-111 0 9 0 9-1 2 1 4-1 4 1 4 0 4-2 4 1 4 0 3 2 4 1 4 1 4 1 4"/><path class="p8" d="M923 1480l0 4-1 5 0 4 1 4 1 5 1-114 0 7 0 6 0 7-1-17-1 4-1 5 1 5 0 4 1 5 0 4 0 5 0 5 0 4 0 5 0 5 0 4 4 30-2 3 1 4-4 3 1 4 0 3-1 4-2 3 1 4 2-114-1 4 3 3-3 3-1 76-3 4 0 3 5 8 1 9 0-112-1 4 0 5 0 4 1 4-1 4 1 4 1 4 0 4 0 4 0 4 0 4 0 4 1 4 0 4 0 4-2 4 1 4 0 4-1 4 0 5-1 4 0 4 0 4 0 4 1 4-2 4 0 4 1 4"/><path class="p1" d="M940 1470l-2 6 0 6 4 6-1 7-4-26 2 7 0 7 0 7-6-17 0 4 1 4-1 4 2 5 0 4 1 4 0 4-2-114 0 6 1 5 0 6 0 5"/><path class="p2" d="M934 1432l0 4-1-22 0 7 0 6-1 6 1 7-1 6 0 7 0 6 0 6 0 7 1 6 0 7 7 6-7 7-1 6 0-114-1 4 0 3 1 4 0 3-1 4 13 3-11 4 0 3 0 4 0 3 10 76-1-113-1 5-1 4-1 4 5 4 3 4 2 4-1 4 0 4-3 5 0 4-1 4 0 4 0 4 2 4 0 4-8 4 9 5 0 4 1 4-2 4-3 4-2 4 1 4 0 4 3 5-3 4 0 4-2 4-5-81-3-35 0 4 1 4 0 4-1 4 1 4 0 4 0 4 0 4 0 4 0 4-1 4 1 3 1 4 0 4 0 4 1 4-1 4 4 4-6 4 0 4 0 4 0 4 2 4 0 3-1 4 0 4 1-57-1 4 1-24 1 7-3 7 3 7 6 7-5 7 1 7 0 7-5-46 1 5 0 6 2 5 2 6-3 5-1 6 1 5-4 6 0 5-1 6-2 5"/><path class="p5" d="M932 1442l0 4-3 5 26-44-3 4-1 4-7 4 3 4-2 5 1 4 47 4-55 4-1 4-6 4 7 4 15 5-20 4 1 4-11 4-5 13 6 5-3 6 7 5-4 6 0-114 0 4-2 4 8 4 0 4-3 4"/><path class="p6" d="M925 1401l-1 6 6-3 1 3 0 4 1 3-3 4-1 3 2 4 1 3-6-40-1 5 0 4 6 5 2 4 12 5 3 4-7 5-2 4-3 4-5 71 3 5 0-112-1 7 22 98-11 7 49-114-40 5-1 4-1 4"/><path class="p3" d="M933 1464l-2 3 0 4 1 4 0 4 0 4 0 4 1 4 0 3 0 4 0 4 0-114-1 5 1 4 0 4-1 34 0 7-1 8-1 8 0 7 0 8 2-71 1 36 0 5 1 4-1 5 0 4 0 5 0 4 1 5-3 31 1-113-1 4 1 4-1 3 0 4 0 3-1 4 1 3 0-3-2 7 1 8-1 7 2 7 2 7-1 7-3 8-1 7-1 7-1 7 1 8 0 7 0 7 0-113-1 7-2 6 4 6-1 6-2 6-1 6 4 6 0 6 0 6 3 6-1 6 2 6 1 7 0 6-3 6 3 6-1 6 0 6-1-113 0 6-1 5 0 5 0 5 2 6 3 5 0 5 1-37 4 7 0 6-1 7-2 6-1 7 1 6-2 6 1 7 2 6-2 7-1 6 0 6 0 7-2 14 1 4-1 3-1 4-1 3 0 4-1-114 0 4 1 4 1 4-1 4-1 4 1 4 0 4-2 4 1 4 0 4 0 4 1 4"/><path class="p8" d="M925 1405l0 4 0 5-1 4 1 4-1 4 0 4-1 55 0 4 0 4 0 5 1 4 0-114 0 8 0 8 0 8 0 7 0 8-1-37 0 4-1 4 1 40-1 5-1 4 3 34 21-45-22 4-2 4 0 3 0 4 0 3 0 4-1 3 1 4 0 3 1 4 0 4 1 3 1 4"/><path class="p2" d="M934 1407l-1 6 1 6 0 6 0 6 0 6 0 6 1 6 0 6-1 6-1 6 0 7 0 6 0 6 1 6-1 6-1 6 1-114 0 4 0 3 0 4 1 3 6 4-5 3-2 14 0 4 1 3 0 4 0 3-1 4-1 3 1 4-1 3 1 4 0 3 0 4 0 3 2 4 0 3 0 4-1 3 0 4 0 3 0 4 0 3 0 4-2-82 1 3 0 4 0 4 0 58 0 5-1 5 0 5 1-113-2 17 0 4 1 4 0 4-1 4 0 5 0 4-1 4-1 4 1 4 1 4-2 4 0 4 0 5 0 4 0 4 0 4 0 4 2 25 0 4 0-114 2 4 1 3 0 4-1 3-1 4 0 4 9 3-10 4 1 3 0 4 0 3 0 4"/><path class="p1" d="M935 1431l-1 4 0 3 0 4 0 3 0 4 0 3 0 4 0 4 0 3 0 4 0 3 0 4 0 3 1 4-2 3 1 4 0 4 0 3 1 4 0 3-1-114 0 8 0 7"/><path class="p7" d="M922 1426l0 7 0 8 1 7 0 8 0 7 2 7-1 8-2 7 1 8 0 7-2-112-1 5-2 5 1 5 3 5-1 5-1 5 3 5-1 5-1 5 4-18-1 3 0 4"/><path class="p9" d="M925 1460l-4-8 0 5 1 5 1 5 0 5 0 5 0 5 1 5-1 5 1 5-1 5-2-109 1 4-1 4"/><path class="p5" d="M929 1413l2 4 0 4 1 4-1 4 1 4 2 4 2 3 1 4-3-33-2 7 1 77"/><path class="p4" d="M933 1406l-2 4 11 65-1 4-3 5 1 4-1 5 0 4-1 5 1-114 0 6-1 7-18 78-2 4 5 4-1 5-4 4"/><path class="p6" d="M929 1435l1 4 1 4 0 4 0 4 52 5-53 4-2 4 1 4-1 4 1 5 0 4-2 0-2 8 2 7-3 8 11-56-1-60-1 8-2 7-1-15 0 5 1 4 0 5-1 5 0 4 1 5 0 4-2 5 22 4-20 5-6 68 4-114-4 7-2 6-2 6 5 6 7 7 1 6-3 6-10 6-3 7 4 6-4 6 1 6 2 7-1 6 1 6 4 6 5-10-2 7-1 6 0 7 0 6 0-113-1 5 2 5-3 5-1 5 2 5 1 5 0 5-1 5 4 5 0 5 3 5 0 5 0 5 0 5 1 5 2 5-3 5"/><path class="p1" d="M938 1412l-1 4 0 4-1 4-1 4 1 4 0 3 0 4 0 4 0 4-2 4 1 4 0-20-1 5 5 48 0 4-2 5-5 5 1-114 1 4 3 4 0 4-3 4 2 4 0 4 1 3 3 4-2 4 0 4"/><path class="p8" d="M926 1490l-1 4 0 4 1 4 0-114-1 5 0 5 0 5-1 47 0 9 0 8 1 8-1 8 1 9-1 8-1-112 0 4 0 4 3 36 2 3-2 4 0 4-6 57-3 4 66-111-35 9-27 10 2 9 1 9 4 9 25 10-25 9-3 9 0 9 0 10-1 9-1 9-1-113-1 6-1 5 0 6 0 5 2 6 1 5-2 6 0 5 0 6-2 5 3 6 5 5 1 6-2 5 1 6-1 5-1 6-1 5-2 6-2-108 0 6 1 6 0 6 1 6 0 5 0 6 0 6 22 17-23 6 0 6-1 6-2 5 28 6-28 6 0 6-1 5 1 6 1 6 2 0 3-113 12 42 51 5-55 4-1 4-6-58-1 10-1 10-1 9 0 10-1 10 1 9 3 16 0 3-1 4 1 4 0 4 0 4-1 4 1 4 0 3 0 4 0 4-1 4 1-112 0 8 0 8 0 8 1 8 0 8 21 8-22 8-1 8 0 8 1 8 0 8-1 8-1 8 1 8 0-111"/><path class="p3" d="M931 1442l-1 4 0 4 1 4 0 4-1 4 0 4 0 4-1 4 1 4 0-85 0 5-1 5 3 86 0 5 0 5-2-111 9 7-7 11 4-16 0 5-1 4 0 4-1 4 0 4 1 4 0 4-7 46-1 4 3 4-1 4-2 4-1 4 0 5 0 4 2 4 1 4 2-114 5 8 3 8-1 8 1 7 0 8 0 8 2 7-2 8 0 8-2 7-4 8 5 6-1 4"/><path class="p7" d="M924 1446l0 4 1 3 0 4 0 4-1 3 0 4-1 3 3-76 0 4 0 4-1 5-1 4 1 4 0 5 0 4 2 4"/><path class="p2" d="M932 1459l1 4 0 4 1 4 1 4-1 4 1 3 0 4-2-77 0 5-2 5 3 5 0 5-1 5 1 5-1 5 1 5 0 5-1 5 1 5 1 5-1 5-1 5 0 5 1-85 0 4-3 98 0-94 1 6 1 5 11 5-12 6 1 5-1 5 1 6 0 5 3 49 1 5 9-81 0 5-2 4 1 4-6 4-2 4 1 4-3 4 0 5-2 4-1-19-1 4 1 5 0 4 2 5 1 5 0-11-2 9 1 8 0 8 0 8-2 9-2 8"/><path class="p6" d="M928 1482l-1 4 1 4 0 4-1 4 3 4 0-114 2 4-1 4 1 4 1 4 0 4-8 89-8 5 1-114 9 34-2 7 2 7 0 7 2 7 2 6-1 7-1 7-1 7-1 7 0 6 0 7 3 7-1-111 1 8-2 8-1 8 0 9 1 8 0 8-2 33-4 4-5 3 3 4 1 4-2 3 1 4 7-106-1 5-2 6 37 79-37 8-4 7 0-87 4 5 3 4-3 5-3 5-1 4 3 5 10 32-1 5-1-43-2 4 1 3-1 4 0 4-1 4 3 4 0 4 9-55 3 9-2 10 5 10-1 9 2 10-3 10 1 9 5 10-2 10-12-44"/><path class="p4" d="M948 1408l3 5-1 5-2 5 4 5 5 5-1 5-7 5-5 4-4 5-2 5 4 5 5 5 4 5 1 5-2 5-7 5-5 5-1-82 0 4 1 3-1 4-1 4 0 3 0 28 10 5"/><path class="p5" d="M933 1499l1-111 1 9 0 8-1 8 0 8-2 9 0 8"/><path class="p9" d="M919 1402l-1 7 0 7 7 50 0 6 0 5 1 5 3 6-2 5-9-37 2 9-2 10 0 10 2 9 1 10-1-113 0 4-1 5 1 5"/></g></g><clipPath id="kc62"><rect x="1030" y="1382" width="127" height="127"/></clipPath><g transform="scale(.5)"><g clip-path="url(#kc62)"><path class="p5" d="M1100 1480l-12 4 8-30-11 8 18 7 4 8-7 8 4 7-11 8 2-112 14 19 2 4 2 4-1 3-2 4-3 4-4 3 0 4-1 4 0 4 3 3 0 4-4 4 5 4 1 3-1 4-9 4 10 3-2 4-1 4-2 4-1 3 0 4-2 4 0 4 3 3 1 4-16-112 15 7-2 6 2 7 0 7 2 7 2 7 2 6 2 7-3 7 23-26-2 4-3 4-7 3 1 4 10 4 10 4-6 4 5 4-5 4-3 3-8 4 6 4"/><path class="p9" d="M1079 1471l14 4-19 3-1 4"/><path class="p8" d="M1117 1489l3 4-13 4-2 5-2-14-3 5 19 4-13 5-4-114-16 5 13 3 3 4 1 4-1 3-4 4-6 4-3 4 2 4 1 3 1 4"/><path class="p6" d="M1119 1484l6 4-20 8-5 4-4-102-4 5-2 5 3 4-6 5 14 5-7 5 3 5-4 5-8 4 0 5 9 5 11 5 5 5-10 4 0-37 3 7 6 6 0 7 2 6 2 7 2 7-2 6 0 7 0 6 0 7-2 7 1-113 1 4 10 68 1 7-1 6 12 7-3 7-2 7 1 7 1-113-3 116 1-111-20 33-1 4 0 3 3 4 10 3-4 4-6 3-2 4 8 3-3 3-8 4 2 3 12 4"/><path class="p3" d="M1084 1401l0 6 2 6-2 7 2 6 0 6-1 6-2 7 2 6-2 6 1 6 11 29-17-57-2 3 3 4 0 3 1 4-1 3-2 4 0 3 2 4 0 3 1 3-1 4 1 3 2 4 2 3 3 4-2 3 0 4-1 3 1 4 1 3-3-113 0 4 0 5 1 4-2 4 2 5-2 4 1 5 3 4-2 5-1 4-1 5-1 4 1 4 0 5-1 4-2 5 0 4-1 5 1 4 5-5 1 5 0 5 1 5-3 5 0 4 8-82 0 3 0 4-2 3-4 4 2 3 1 4-1 3-19 10 29 31 0 4-1 4-1 4-1 3-3 4 3 4-6-91 3 4-4 82 2 4 1 3 2-114 0 5-2 4 2 4 1 5-1 4-1 5 0 4 1 4"/><path class="p1" d="M1069 1388l0 5-2 4 2 4 2 5 2 4-2 5-1 4 3 4 0 5 2 4-1 4 11 13 5 5-1 4-4 5-2 4-8 4-4 5 0 4 9 4-15-84 1 4-4 4-1 4 2 4-1 4 1 4 0 4-2 4 0 4 1 4 3 4 2 4-1 4-2 4 0 4 1 4 1 4 0 4 0 4 1 4 0-40 1 4 2 3-1 4 0 3 0 4-12-50 4 7-12 6 34-15-11 79 0 3-3 4"/><path class="p7" d="M1121 1434l-12-46 2 4 0 4-3 4 2 3"/><path class="p2" d="M1090 1441l-2 4-25-57 3 7 16 75-1 6-1 6 1 6 2 7-3 6-2-113 1 4 0 4-11 108-5-114 8 4-12 3-1 3 5 4-1 3 9 4 2 3 0 4-3 3-5 4-8 3 4 4 16 67 3 5-2-114-1 4 3 3 2 4 2 3 1 4-3 53 0 4-1 3-3 4 0 4-1 3 0 4 0 3 2 4-2 3 1 4-1 3 0 4-3-112 1 8 0 8 1 7-1 8-2 8-1 7-1-43-2 7 20-10-11 5-1 4-7 4 1 4 10 4 0 4-2 4 5 4 3 4-11 4-8 4 10 4 0 4 3 4 3 4-4 4-7 4-2 4-2 5-1 4-1 4 6 4 8 4 1 4 1 4 0 4 0 4 3-114 0 4 1 4-5 4-1 4 3 4 5 4 0 3-6 4-3 4 12-20 9 9-6 10-1 10-1 9-2 10 1 10-4 9 3 10 0 10 0 9 3-111-3 4 5 3 0 4-2 3-7 14 0 3-3 4"/><path class="p7" d="M1098 1406h0"/><path class="p3" d="M1093 1428l-9 13 2 4-1 4 3 5-2 4 1 5-1 4-4 4 1 5 18-88 11 7 2 18 2 7-4 6-6 6 5 6 1 7 5 6-6 6 1 6-32-12-5 4-2 5-2 5 2 4-1 5-2 5 3 4 6 5 8 4-7 5 4 5 3-114 3 4-3 3 1 4 8 3-6 4-4 3 4 4 0 3-3 4-4 0 1 8 1 9 0 9 0 9 0 9 3 9-1 9"/><path class="p9" d="M1096 1429l-1 3-1 4-1 3-1 4 0 3 6 4 0 3-17-26-3 3-3 4-1 3 2 4 1 3-7 4 4 3-2 4 1 3 3 4 1 3 1 4-3 3-25 15 9 3-2 4 0 3 6 4 3 3-4-111-3 9 2 9 8 2-3 4-1 4 10 4 9 4-25 4 6 4 10 3-5 4-2 4 6 4 22 4"/><path class="p6" d="M1124 1401l-2 6-6-3 1 3 3 4-1 3-2 4 1 3-2 4 2 3 13-40 3 5 1 4-4 5 5 4-3 5-5 4 4 5-10 4 6 4-7 71-3 5 1-112-1 7 9 98-6 7-19-114 15 5 2 4 9 4"/><path class="p4" d="M1093 1432l-3 3-3 3 2 4 2 3 3 4-2 3 0 4-1 3-1 4 3 3 1 3 1 4-2-18-1 5 5 4 3 4-1 5 1 4 0 5-5 4-3 5 2 4 2 5-4 4-2-113-1 4 0 5 1 4 3 5-1 4 1 5-2 4 4 5-1 4 2 5 1 5 1 4 1 5 2 4 1 5 2 4 0 5 0 4-1 5-1 4 0 5-1 4-2 5"/><path class="p5" d="M1114 1442l2 4-1 5 9-44 0 4 0 4 3 4-3 4-8 5-8 4-24 4 24 4-1 4 2 4-3 4-10 5 4 4 4 4 3 4-4 13 7 5-1 6 5 5 8 6-6-114 0 4-11 4-1 4-4 4 1 4"/><path class="p8" d="M1099 1480l5 4 1 5 5 4-1 4-7 5-4-114-1 7 0 6-1 7-3-17-2 4 2 5 4 5-1 4-7 5 4 4-2 5-2 5 5 4 0 5 0 5 1 4-7 30 14 3 11 4 1 3-18 4 1 3 9 4 4 3 14 4-2-114-7 4-3 3-5 3-1 76 1 4-22 3 17 8-1 9 0-112 3 4-2 5-3 4 0 4-3 4-1 4-1 4 3 4 1 4-4 4-2 4-2 4 0 4-3 4 4 4 2 4 4 4 2 4 6 4-1 5-1 4 1 4 3 4-2 4-4 4 1 4-6 4-1 4"/><path class="p2" d="M1083 1432l1 4-3-22 0 7 3 6-2 6 1 7-1 6 2 7-1 6 0 6 2 7 2 6-1 7 0 6-4 7 1 6 0-114 1 4-1 3-2 4 4 3 1 4 2 3 0 4-4 3 0 4 0 3 25 76 3-113-11 5-6 4 7 4 8 4-10 4 1 4-3 4-9 4 11 5-3 4-5 4 3 4-10 4-6 4-1 4 3 4 1 5 6 4 0 4 1 4 0 4-5 4-5 4-1 4 4 5 9 4-1 4-5 4-18-81 10-35 2 4 1 4 0 4 1 4 0 4 0 4 3 4 0 4 0 4-1 4 4 4 2 3-2 4-2 4 0 4 0 4-1 4-3 4 0 4-3 4 2 4 0 4 0 4 3 3-1 4 3 4-1-57-3 4 3-24-4 7 3 7 0 7 4 7 5 7 7 7-5 7-10-46-4 5-4 6-4 5 9 6 6 5-4 6-6 5-1 6-9 5 8 6 4 5"/><path class="p1" d="M1090 1470l-6 6 7 6 6 6 2 7-32-26-1 7-1 7 2 7-3-17 0 4 0 4-1 4 0 5 1 4 0 4-1 4-1-114 0 6 0 5 4 6 1 5"/><path class="p4" d="M1099 1406l-1 4-5 65 1 4 0 5 2 4-1 5-1 4-1 5 1-114-1 6 3 7 5 78-7 4 2 4-6 5 7 4"/><path class="p2" d="M1080 1407l1 6 0 6-1 6-1 6 1 6-1 6 3 6 1 6 0 6 0 6 3 7 0 6 0 6-2 6 1 6-1 6-3-114 1 4-1 3 0 4 0 3-1 4 1 3-1 14 0 4 0 3 1 4-2 3 0 4 2 3 0 4 3 3 1 4-1 3-2 4 0 3 3 4-1 3-2 4 1 3-1 4-4 3 2 4-1 3-2 4 8-82-1 3 1 4-2 4-4 58 1 5 1 5 0 5 2-113-5 17 2 4-2 4-2 4 0 4 0 5 3 4-2 4 0 4 0 4 0 4 3 4 1 4 1 5-2 4 0 4 1 4 0 4 0 25 0 4 1-114 0 4 2 3-1 4 3 3 3 4-3 4-1 3 0 4-4 3 1 4-1 3-1 4"/><path class="p3" d="M1086 1464l2 3 0 4-1 4-1 4 1 4 2 4 0 4 1 3 0 4-1 4-3-114 0 5 2 4 0 4-4 34 2 7 1 8-1 8 1 7 1 8-2-71-3 36 1 5 0 4 2 5-1 4-2 5 0 4 0 5-2 31 1-113-1 4 2 4 3 3 0 4 0 3 0 4-1 3-5-3-1 7 6 8 1 7 5 7-5 7 1 7 6 8-3 7-6 7 0 7 4 8-5 7 5 7-8-113 7 7 1 6-7 6 4 6-2 6 5 6-4 6-5 6-2 6-4 6 2 6 7 6-6 7 12 6-3 6-1 6 0 6-3 6-3-113 3 6-7 5-2 5 5 5 1 6 0 5-7 5-5-37 9 7-5 6-9 7-5 6 1 7-4 6-1 6 2 7 11 6 8 7-1 6-1 6-6 7 27 14-1 4 0 3 0 4-1 3 2 4 0-114-2 4 1 4 0 4-1 4 1 4 1 4-2 4 4 4 2 4-3 4-2 4-2 4"/><path class="p5" d="M1102 1413l-2 4 1 4 2 4-5 4 2 4-3 4-1 3 2 4 0-33 1 7-5 77"/><path class="p1" d="M1066 1431l1 4 0 3-1 4 2 3-1 4 3 3 1 4-2 4-1 3 0 4-2 3 0 4-1 3-1 4 4 3-4 4-2 4-1 3-2 4 1 3 1-114 3 8 1 7"/><path class="p6" d="M1124 1435l-1 4 0 4-2 4-3 4-34 5 31 4 0 4-2 4 2 4-1 5 1 4 4 0-2 8 2 7 0 8-9-56-4-60 0 8-2 7-3-15 0 5 0 4-4 5 0 5-2 4 5 5 2 4 3 5-19 4 18 5 9 68-5-114-3 7-2 6-4 6 0 6 4 7 2 6 1 6 0 6-8 7-4 6-7 6 10 6-1 7-3 6 7 6-2 6 10-10 0 7-2 6 0 7-2 6 2-113 0 5 4 5-2 5-1 5-3 5-2 5 3 5 2 5-5 5 3 5-1 5 0 5 5 5-2 5-1 5-5 5 5 5"/><path class="p8" d="M1111 1405l-2 4 1 5-2 4 3 4 1 4 3 4-18 55-1 4-1 4 0 5 4 4-3-114 0 8 1 8-5 8 0 7 3 8 8-37-5 4-1 4-1 40-2 5-2 4 5 34 8-45-4 4 3 4-4 3 3 4 1 3 0 4 3 3-3 4 5 3 3 4-4 4 4 3-2 4"/><path class="p7" d="M1084 1426l11 7 2 8 2 7 4 8-6 7 10 7-10 8 7 7 9 8 0 7 5-112 10 5-11 5-7 5-1 5 3 5-8 5-4 5-13 5 8 5 11-18-2 3-2 4"/><path class="p9" d="M1099 1460l-23-8 1 5 4 5 8 5-5 5-1 5 1 5-7 5-2 5 3 5-4 5 12-109-8 4 7 4"/><path class="p7" d="M1105 1446l0 4-1 3 4 4 0 4-1 3 0 4 2 3-6-76 1 4 0 4 2 5 2 4 2 4-3 5 1 4-3 4"/><path class="p5" d="M1100 1499l0-111 6 9 1 8 3 8 1 8 0 9-2 8"/><path class="p1" d="M1070 1412l0 4 2 4-1 4-1 4-1 4-2 3-1 4 1 4 0 4-2 4 1 4-1-20 0 5 4 48-2 4 2 5-6 5 4-114 2 4-1 4-3 4 0 4 0 4-3 4-6 3-3 4 8 4-2 4"/><path class="p2" d="M1078 1459l0 4 1 4-1 4-2 4 0 4 3 3 1 4-7-77 2 5 0 5 0 5-1 5-1 5-1 5 2 5 0 5-2 5-1 5 1 5 0 5 2 5 4 5 0 5 2-85 1 4-2 98 3-94 1 6-2 5-1 5 1 6-2 5 3 5-2 6 0 5 4 49 2 5-10-81-1 5-2 4 0 4-3 4 8 4-4 4-9 4 9 5 0 4 7-19-10 4 3 5 4 4 2 5-1 5 4-11 0 9-2 8 8 8 3 8 10 9 7 8"/><path class="p3" d="M1089 1442l4 4-1 4 0 4 1 4 1 4 0 4-2 4 0 4-2 4-17-85 1 5 2 5 9 86 0 5 0 5-10-111 8 7-3 11 11-16-1 5-1 4 1 4-1 4-2 4 0 4-2 4-9 46-3 4 6 4 3 4 10 4-5 4 0 5 3 4 2 4-6 4 0-114 0 8 0 8 5 8-5 7 2 8-7 8 2 7-3 8 1 8 5 7-7 8-6 6 4 4"/><path class="p4" d="M1099 1408l-7 5 0 5 2 5 2 5 4 5-7 5 10 5-10 4 2 5 10 5-5 5-1 5 0 5-6 5-7 5 0 5-7 5 13-82 0 4 2 3 2 4 0 4-2 3-13 28-2 5"/><path class="p9" d="M1081 1402l3 7-4 7-27 50 2 6 0 5-2 5 27 6 9 5-29-37-7 9 13 10 10 10-7 9 9 10 7-113-9 4-3 5-6 5"/><path class="p6" d="M1118 1482l1 4 0 4 1 4 2 4 0 4 1-114-1 4-4 4-1 4 1 4 0 4-32 89-13 5-4-114 47 34-3 7 0 7-3 7 0 7 1 6 1 7 1 7-3 7 3 7 1 6 2 7 1 7 0-111 0 8 0 8-1 8 1 9-1 8-1 8 18 33 3 4-12 3-7 4-2 4 2 3-1 4-6-106 3 5 2 6-9 79-2 8 5 7-37-87-7 5 5 4 0 5 4 5-1 4 9 5 25 32-1 5-7-43 4 4 3 3 2 4 3 4 2 4 5 4-4 4-3-55 3 9-9 10 3 10 14 9-7 10-1 10-2 9 8 10-5 10-1-44"/><path class="p8" d="M1109 1490l-2 4 0 4 0 4 3-114 1 5 2 5-5 5-16 47 4 9-5 8 2 8 3 8-3 9 1 8-3-112 1 4-5 4-24 36 10 3 11 4-11 4 39 57 9 4-18-111-12 9 34 10 11 9-11 9-7 9-23 10 17 9-2 9 6 9 7 10-13 9-26 9 1-113 4 6 7 5-4 6 8 5 1 6-11 5-6 6 0 5 10 6-15 5 13 6 12 5 4 6-10 5 1 6-17 5-5 6 5 5 7 6 8-108 1 6-2 6 2 6 0 6 0 5 0 6-1 6 5 17-8 6-6 6 15 6 4 5-3 6-13 6 3 6-5 5 0 6 5 6 3 0 4-113 4 42-17 5 16 4 0 4 0-58-3 10 4 10-5 9-5 10-3 10 2 9 9 16 1 3-7 4-4 4-4 4-6 4 2 4 1 4 0 3 2 4 0 4 2 4-1-112 3 8 2 8 1 8 2 8-7 8 0 8-1 8 2 8-1 8 0 8 0 8 1 8-1 8 0 8 7-111"/></g></g><clipPath id="kc63"><rect x="1163" y="1382" width="127" height="127"/></clipPath><g transform="scale(.5)"><g clip-path="url(#kc63)"><path class="p7" d="M1236 1434l1-46-2 4 2 4-1 4 0 3"/><path class="p3" d="M1245 1401l0 6 0 6 6 7-3 6 3 6-4 6 4 7-4 6-3 6-3 6 8 29-15-57-1 3-3 4-5 3-2 4 8 3 0 4 1 3 1 4 0 3-1 3 6 4-3 3-1 4-2 3 4 4 2 3 0 4 3 3 1 4 2 3-6-113-1 4 1 5-5 4 1 4 0 5-3 4-2 5-3 4 1 5 2 4 1 5 3 4-1 4 0 5 1 4 3 5 4 4 1 5 2 4 7-5-2 5-3 5-3 5 0 5 2 4-10-82 3 3 1 4 3 3-2 4-6 3-1 4 1 3 27 10-22 31-2 4 2 4-3 4-1 3 2 4 3 4-24-91 2 4 16 82 4 4-2 3 1-114 4 5 1 4-2 4 2 5-1 4 3 5 2 4-1 4"/><path class="p6" d="M1235 1484l1 4 7 8-5 4 11-102-6 5 2 5 4 4-3 5-3 5 6 5-14 5 12 5 3 4 1 5 2 5 9 5-4 5-6 4-13-37 1 7 0 6-1 7 3 6-1 7-2 7 1 6 0 7 1 6 1 7-2 7-3-113-1 4-10 68-5 7 1 6-1 7 1 7-1 7-5 7 1-113 10 116 0-111-4 33 4 4-2 3 2 4-1 3 2 4 1 3-2 4 8 3-3 3 3 4-1 3 7 4"/><path class="p9" d="M1231 1471l-1 4-2 3-2 4"/><path class="p8" d="M1234 1489l-3 4 1 4 4 5-7-14 2 5 4 4-5 5-1-114 8 5-4 3-2 4 1 4 2 3 0 4-1 4 0 4 0 4 3 3 0 4"/><path class="p2" d="M1237 1441l2 4 10-57-8 7 5 75-2 6-2 6 1 6 4 7 0 6 0-113 0 4-3 4 4 108 3-114-5 4 0 3-1 3 12 4-2 3 10 4 0 3 4 4-8 3-3 4-10 3 7 4-4 67-4 5 0-114 2 4 0 3-2 4 0 3-58 4 64 53-4 4 0 3 2 4 2 4-1 3 3 4 0 3-2 4-1 3 0 4-1 3 0 4 2-112 1 8-1 8 1 7 0 8 2 8-2 7-25-43-1 7-3-10 1 5-12 4 0 4 5 4 5 4-1 4-2 4 4 4-3 4 3 4-6 4-1 4 9 4 13 4 4 4-2 4 1 4 0 4-14 5 9 4-1 4-2 4-3 4-12 4 3 4 5 4 8 4 9-114 2 4-5 4 1 4 10 4 10 4 5 4-10 3-5 4-1 4-8-20 4 9 3 10-13 10 0 9 1 10-3 10 2 9 4 10-2 10-1 9 13-111-9 4-9 3-4 4-8 3-3 14-2 3-4 4"/><path class="p5" d="M1239 1480l-4 4 21-30-19 8 12 7-2 8-2 8 1 7-3 8-5-112 3 19-2 4-1 4 0 3-1 4 0 4-2 3 0 4 1 4 1 4 1 3 2 4-3 4 2 4 2 3 0 4-5 4 3 3 0 4 1 4 1 4 0 3-1 4-1 4-1 4 2 3 0 4 2-112-2 7 0 6 0 7-2 7-2 7-3 7 0 6 2 7-2 7 4-26 3 4-5 4-13 3 0 4-1 4 0 4 0 4 5 4 2 4-10 3 2 4 3 4"/><path class="p1" d="M1250 1388l2 5-2 4 0 4 0 5 0 4 0 5-1 4-2 4-1 5 0 4 2 4-12 13-2 5-6 4 9 5 1 4-2 4 2 5 0 4 5 4 10-84-2 4-1 4 1 4-1 4 2 4 2 4-1 4-2 4-2 4 0 4 1 4-2 4 3 4-1 4 1 4-2 4 4 4 1 4-1 4-1 4-2-40 0 4 0 3 2 4 0 3 3 4-5-50 10 7-4 6-17-15 5 79-2 3 2 4"/><path class="p2" d="M1245 1432l2 4 2-22-2 7 3 6 0 6 0 7-6 6-2 7-4 6 4 6 0 7 3 6-1 7-38 6 39 7-2 6 0-114 0 4 2 3-1 4 2 3-1 4-58 3 59 4-1 3 0 4-2 3-6 76-5-113 13 5-4 4 11 4 4 4 0 4-4 4 4 4-5 4-12 5-9 4 10 4-3 4 2 4 8 4-4 4-56 4 62 5 5 4-3 4-1 4 1 4 3 4-10 4 3 4 5 5-5 4 6 4 4 4-27-81 5-35 2 4 0 4 0 4-1 4-1 4 2 4 0 4-1 4 1 4-1 4 1 4-1 3 2 4 2 4 2 4 3 4 0 4-38 4 34 4 2 4-1 4 0 4-2 4 0 3 5 4 1 4 9-57 2 4-9-24 5 7-7 7 1 7-53 7 52 7 8 7-3 7 15-46 3 5-1 6-5 5-5 6-7 5 3 6 10 5-5 6-9 5-3 6 3 5"/><path class="p9" d="M1229 1429l1 3 0 4 0 3 1 4 0 3 0 4 0 3 1-26 0 3-1 4 0 3 1 4 0 3-1 4-1 3 0 4 0 3 1 4 1 3-1 4 0 3 8 15-2 3 0 4-2 3 1 4 0 3-1-111-1 9 0 9-2 2 1 4-2 4-2 4 1 4-1 4 2 4 0 3 2 4 0 4-2 4 1 4"/><path class="p1" d="M1250 1470l4 6 4 6 6 6-9 7-3-26-1 7 2 7-1 7-4-17-1 4-1 4 0 4 0 5 1 4 1 4 0 4 0-114 0 6 1 5-1 6 0 5"/><path class="p5" d="M1240 1442l-1 4-1 5-8-44 6 4 6 4-10 4-5 4-2 5 4 4 6 4 3 4 7 4 1 4 5 4-16 5 10 4 8 4-1 4-17 13-2 5 2 6 0 5-1 6 2-114-11 4 3 4 8 4 0 4-1 4"/><path class="p3" d="M1246 1428l0 13 6 4 6 4-3 5-4 4-1 5 2 4-1 4 1 5-8-88-6 7 3 18-11 7 13 6 23 6 2 6 2 7-3 6-11 6-7 6-14-12 0 4 10 5-7 5-14 4 16 5 5 5-11 4-25 5 26 4-8 5 2 5-31-114 29 4-10 3 4 4-11 3-18 4 35 3-7 4-12 3 15 4 19 0 1 8-6 9-50 9 50 9 2 9 3 9 1 9"/><path class="p8" d="M1237 1480l0 4-2 5-2 4 1 4-1 5-3-114 3 7 2 6-3 7 3-17 0 4-1 5 2 5-1 4-2 5-1 4 0 5-1 5-1 4 0 5 2 5 1 4-12 30-3 3-3 4-3 3-1 4 2 3 3 4 4 3 5 4 2-114 1 4-1 3 0 3 7 76 3 4 7 3-9 8 2 9-1-112 2 4-2 5-2 4-1 4 0 4 1 4 0 4 0 4-1 4 0 4-1 4 2 4-1 4 0 4-3 4 0 4-1 4 0 4 3 4-2 5 0 4 3 4 0 4-3 4-2 4 1 4-2 4 0 4"/><path class="p6" d="M1241 1401l-1 6-3-3 0 3 2 4 0 3-1 4 2 3-1 4-3 3 26-40-6 5-1 4 4 5-7 4 4 5 8 4 4 5-4 4 4 4-31 71 2 5 0-112 1 7-12 98 3 7 6-114 2 5-6 4 1 4"/><path class="p4" d="M1227 1432l-3 3 3 3 7 4 0 3 4 4-25 3 22 4-4 3 3 4 0 3 1 3-8 4 1-18-6 5-2 4-5 4 3 5-4 4-6 5-8 4 6 5 5 4 7 5 0 4 0-113 1 4 1 5 5 4-1 5 0 4-3 5 1 4-5 5 1 4-1 5 1 5 6 4 2 5 1 4-4 5-4 4 7 5-4 4-3 5 2 4 0 5-7 4 0 5"/><path class="p7" d="M1242 1406h0"/><path class="p2" d="M1245 1407l-1 6-4 6 2 6 1 6 2 6 1 6-2 6 1 6 1 6 0 6 6 7 0 6-3 6-2 6 2 6-2 6-3-114-1 4 0 3-1 4-2 3-38 4 36 3 3 14-2 4 1 3-3 4 0 3 0 4 1 3 3 4-3 3-2 4 1 3 2 4 0 3 0 4 0 3 0 4 1 3 2 4 2 3 3 4 1 3 3 4-5-82 2 3-1 4 4 4-7 58 1 5 0 5-1 5 2-113 4 17 1 4 1 4-1 4-3 4-2 5-1 4 2 4-3 4-1 4-4 4 2 4-1 4 0 5 2 4 1 4 2 4 0 4-4 25 3 4 1-114 0 4 1 3-3 4 1 3-3 4-3 4-30 3 33 4 0 3-1 4-2 3-2 4"/><path class="p7" d="M1240 1426l-2 7 0 8-2 7-2 8-1 7 5 7 1 8-1 7 1 8-5 7 0-112 3 5 2 5 2 5-3 5 0 5-3 5 2 5 1 5 1 5-9-18 1 3 0 4"/><path class="p5" d="M1239 1413l0 4 1 4 1 4-1 4 0 4-2 4 0 3-1 4-2-33 1 7 2 77"/><path class="p9" d="M1232 1460l-2-8-1 5-1 5 1 5 0 5-1 5 1 5 0 5 0 5 0 5 1 5 3-109-1 4 0 4"/><path class="p6" d="M1239 1435l0 4 1 4-1 4-2 4 2 5-4 4 0 4 0 4 2 4 0 5 2 4-5 0-3 8 0 7 1 8 6-56-3-60-1 8 1 7 0-15-2 5-2 4 0 5 0 5 0 4 1 5 0 4 3 5 5 4-3 5 13 68-3-114-7 7-5 6 1 6 1 6 2 7 1 6 6 6 0 6-1 7 3 6 1 6-6 6 5 7 2 6-1 6-2 6-7-10 1 7-1 6 0 7-2 6 0-113 1 5 0 5 1 5-1 5-2 5 0 5 1 5 1 5-3 5-1 5-1 5 0 5 1 5 2 5-1 5 0 5 0 5"/><path class="p3" d="M1238 1464l3 3-4 4 4 4 1 4-2 4-2 4 2 4-3 3 7 4 1 4 2-114 1 5 0 4-1 4-11 34-3 7 0 8 5 8-1 7 1 8 5-71 7 36 1 5-2 4 0 5-5 4 0 5-3 4-35 5 37 31-4-113-1 4 1 4 1 3 0 4 1 3 2 4-3 3-55-3 77 7-11 8 14 7 4 7 2 7-9 7 4 8 1 7-4 7-69 7 70 8 6 7-10 7-4-113-2 7 1 6-1 6 2 6-6 6 8 6-12 6 6 6 3 6 5 6-4 6 6 6-3 7 1 6-11 6 8 6 6 6 2 6 5-113-5 6-5 5-2 5 7 5-6 6 4 5-12 5 2-37 7 7 2 6 7 7 0 6-68 7 61 6-4 6 5 7-3 6-62 7 45 6-6 6 8 7-3 14-53 4 43 3 3 4 3 3 1 4-1-114-5 4 1 4-2 4-1 4-1 4-3 4 5 4 4 4-3 4 0 4-3 4-5 4"/><path class="p8" d="M1235 1405l-1 4 2 5-1 4 0 4-1 4 1 4 0 55 0 4-1 4 1 5 0 4 2-114 0 8 0 8 0 8-2 7-2 8-5-37 4 4 0 4 4 40 0 5 0 4-5 34 2-45-5 4 0 4 1 3 3 4-2 3-1 4 1 3 0 4 0 3 1 4-1 4 0 3 1 4"/><path class="p1" d="M1254 1431l-1 4 1 3 1 4 2 3-2 4-1 3-1 4-1 4-1 3-1 4 1 3 2 4-1 3 4 4-3 3-1 4 0 4 0 3 1 4-1 3 0-114 1 8-1 7"/><path class="p4" d="M1223 1406l1 4 5 65-1 4 5 5-1 4-4 5 0 4 5 5 0-114 0 6-5 7-31 78-7 4 11 4-9 5 1 4"/><path class="p2" d="M1248 1459l1 4-3 4 0 4 0 4 3 4-1 3 0 4 0-77 0 5 1 5 3 5 2 5-1 5-5 5-1 5 1 5-1 5-4 5-2 5 1 5 0 5 3 5 2 5 0-85 1 4 1 98-10-94-2 6 2 5-40 5 37 6 2 5-1 5 0 6 2 5 1 49 1 5 9-81 11 5-3 4 5 4-9 4-1 4-1 4 6 4 6 5 0 4-34-19-3 4-6 5 2 4-6 5-9 5 43-11-7 9 5 8 10 8 5 8 1 9-6 8"/><path class="p8" d="M1237 1490l-1 4-1 4 2 4 0-114 1 5-1 5 0 5-5 47 0 9 1 8 0 8-1 8 2 9 0 8-1-112 1 4-1 4-13 36-2 3 0 4-1 4 19 57 7 4-4-111-6 9 18 10-5 9 2 9-5 9-2 10 11 9-1 9-2 9 2 10-1 9 2 9-1-113 0 6-8 5 4 6-5 5 8 6 2 5-6 6-1 5 8 6-2 5 0 6-5 5 7 6-9 5 5 6 1 5 2 6-8 5-6 6 0-108-2 6 0 6 1 6 1 6 0 5-1 6-1 6 5 17-8 6-4 6-3 6 6 5 9 6-18 6-5 6-1 5 2 6-9 6 6 0 10-113 19 42-11 5 12 4-1 4-8-58 0 10 1 10-3 9-1 10 1 10 0 9-1 16-1 3-1 4-3 4-3 4-2 4 5 4 0 4 0 3-1 4 1 4-1 4 4-112-1 8 1 8 1 8 1 8-1 8 4 8-5 8 2 8-2 8-1 8-2 8-1 8 1 8 1 8-3-111"/><path class="p7" d="M1232 1446l-1 4 1 3 0 4 0 4 0 3 1 4-1 3 5-76-1 4-1 4 1 5 1 4 0 4 0 5 1 4 1 4"/><path class="p9" d="M1228 1402l-1 7 2 7-1 50 1 6-1 5 0 5-2 6 1 5 7-37-4 9 1 10 2 10 0 9-1 10-4-113-1 4 4 5 0 5"/><path class="p4" d="M1229 1408l6 5-1 5 3 5 3 5-16 5-6 5 29 5 8 4-1 5 2 5 12 5-7 5 1 5 5 5 2 5-18 5-12 5-15-82 4 4-2 3-6 4 2 4-5 3-22 28 7 5"/><path class="p6" d="M1233 1482l2 4 1 4 0 4-3 4 2 4 3-114 1 4 0 4 2 4-2 4 1 4 19 89-4 5 3-114-24 34 0 7-1 7-1 7-2 7 2 6 1 7 1 7 1 7-1 7-1 6-2 7 1 7 1-111 2 8 1 8 1 8 1 9-2 8-1 8-9 33 2 4 4 3 3 4-5 4 10 3-1 4-7-106 0 5 1 6 8 79-13 8-3 7 9-87 3 5-5 4-6 5 5 5 4 4-2 5-2 32-2 5 7-43 0 4-2 3 1 4 0 4 0 4-1 4 2 4-12-55 0 9-2 10 1 10 4 9 6 10-2 10 1 9 9 10-1 10-4-44"/><path class="p3" d="M1224 1442l3 4-1 4 2 4-2 4 2 4-2 4 4 4 5 4-5 4 29-85 1 5-6 5-4 86-4 5 2 5 4-111-55 7 46 11-10-16 2 5 6 4-2 4 0 4 0 4-2 4 1 4 25 46 3 4 0 4-3 4-7 4-4 4-13 5 4 4 13 4 8 4 0-114 0 8-26 8-1 8-7 7 13 8-1 8-2 7-6 8-7 8-5 7 8 8-46 6 18 4"/><path class="p5" d="M1238 1499l0-111 1 9 2 8 0 8-3 8-1 9 1 8"/><path class="p1" d="M1251 1412l1 4-2 4-2 4 0 4 0 4-2 3 2 4 0 4 2 4 0 4 1 4-2-20 2 5-26 48 6 4 5 5 7 5 0-114-1 4 6 4-7 4 5 4 2 4 3 4-1 3-1 4 1 4 4 4"/></g></g><clipPath id="kc64"><rect x="1296" y="1382" width="127" height="127"/></clipPath><g transform="scale(.5)"><g clip-path="url(#kc64)"><path class="p3" d="M1335 1401l3 6-1 6 0 7 3 6 0 6-2 6-2 7 1 6-1 6 2 6 6 29-18-57 1 3-4 4 6 3-1 4 2 3 0 4-2 3-3 4 0 3 4 3 0 4 5 3-3 4 0 3-1 4-1 3 0 4-1 3 1 4 1 3 0-113 2 4-1 5 0 4 0 4 3 5 0 4 1 5 0 4 1 5-2 4-3 5-1 4-1 4 0 5 0 4 4 5 1 4 1 5-4 4 10-5-4 5 1 5-1 5 3 5 0 4-2-82 2 3 1 4 3 3 2 4 2 3 0 4-2 3-30 10 15 31 3 4-2 4 2 4 0 3-1 4-2 4 3-91 1 4 3 82-3 4-1 3 2-114 0 5 3 4 1 4-2 5-3 4-3 5 2 4 0 4"/><path class="p1" d="M1326 1388l0 5 0 4 0 4 0 5-1 4 0 5 0 4 0 4 1 5 0 4 0 4 5 13-2 5 0 4 1 5-3 4 1 4 0 5-1 4-1 4 3-84 1 4-1 4 0 4 1 4 1 4-1 4 0 4-1 4-2 4 0 4 0 4 1 4 0 4 0 4-1 4 1 4-1 4 2 4 0 4-1 4 0-40 0 4-1 3 1 4 1 3-2 4 0-50 3 7-5 6 6-15-6 79 0 3 0 4"/><path class="p5" d="M1316 1480l1 4-2-30-3 8-1 7 2 8-3 8 1 7-2 8-2-112 13 19 0 4 0 4 0 3-2 4 0 4 0 3 0 4 0 4 0 4 1 3 0 4 0 4 0 4 0 3 0 4-7 4 5 3 0 4 0 4-1 4-1 3-1 4 1 4 0 4-1 3 1 4 0-112 2 7-1 6 2 7 0 7 0 7 1 7 0 6 1 7-1 7-5-26 3 4 1 4 0 3 1 4 0 4 0 4-3 4 0 4-3 4-4 3 1 4 0 4"/><path class="p7" d="M1323 1434l-7-46 0 4 0 4-2 4 0 3"/><path class="p8" d="M1320 1489l-2 4-1 4-3 5-7-14 2 5 0 4 3 5 0-114 1 5 2 3 0 4 0 4 1 3 1 4 1 4 0 4-1 4 2 3 0 4"/><path class="p2" d="M1327 1441l1 4 1-57 0 7-1 75 0 6 0 6-1 6 2 7 0 6 1-113 0 4-1 4-10 108-5-114-3 4 3 3 2 3-1 4-1 3 0 4 3 3-2 4 0 3 5 4 0 3-5 4 12 67 0 5 0-114-2 4 1 3 0 4 1 3 59 4-51 53-1 4 1 3-2 4-1 4-2 3-2 4-1 3 0 4 2 3 0 4-2 3-1 4 0-112-1 8 0 8-1 7 2 8-1 8-1 7-3-43 4 7 9-10-1 5-3 4-1 4-5 4-1 4 0 4-7 4 0 4-1 4-4 4-1 4 0 4 0 4-3 4 6 4 5 4 6 4-3 4 1 5 2 4 4 4 1 4 5 4-7 4 4 4 0 4 5 4 2-114 0 4-5 4 4 4-2 4-1 4 7 4-9 3-1 4-5 4-7-20-4 9 3 10 8 10-2 9 4 10 5 10-2 9-2 10 2 10 0 9 2-111-1 4-4 3 0 4 5 3 0 14 1 3-1 4"/><path class="p6" d="M1317 1484l-7 4-2 8 2 4-3-102 1 5 2 5 0 4 1 5 0 5 1 5 1 5-5 5 7 4 3 5 1 5 0 5-2 5 0 4-1-37 0 7 0 6 1 7 0 6 0 7 1 7 0 6 1 7-1 6 1 7-1 7 0-113-1 4 3 68 0 7-4 6 3 7 4 7 1 7-3 7-2-113-10 116 3-111 11 33-1 4-5 3 5 4-1 3 5 4-1 3-1 4-2 3-5 3 0 4 2 3-1 4"/><path class="p9" d="M1318 1471l-1 4-1 3-1 4"/><path class="p4" d="M1325 1432l0 3-3 3 3 4 0 3 1 4 0 3 1 4-2 3-1 4 2 3 3 3 0 4-7-18 1 5-2 4-1 4-1 5-1 4 0 5 3 4-2 5-1 4 1 5-1 4 1-113 1 4 0 5 2 4 1 5 3 4 0 5-1 4-2 5-1 4-3 5 2 5-1 4-1 5 2 4-1 5 3 4 2 5 0 4 1 5-1 4 1 5-1 4 1 5"/><path class="p7" d="M1309 1406h0"/><path class="p2" d="M1326 1432l1 4-3-22 1 7 0 6 2 6 0 7 0 6-1 7-1 6 1 6 0 7 0 6 0 7 65 6-64 7 0 6 1-114-1 4 0 3 1 4 1 3-1 4 67 3-69 4 0 3 1 4 0 3-6 76 0-113 3 5-5 4-1 4 3 4 1 4-5 4-1 4-1 4 3 5 4 4-3 4-5 4 2 4 2 4 1 4 87 4-81 5-1 4-4 4 1 4 2 4-3 4-1 4 2 4 7 5 8 4 1 4-3 4-26-81 17-35 0 4-1 4 1 4-1 4-1 4 1 4-1 4 1 4 0 4 0 4-1 4 0 3-2 4 1 4 2 4 1 4 0 4 78 4-78 4-1 4-2 4 1 4 0 4-1 3 2 4-2 4 8-57-8 4 2-24 0 7-6 7 0 7 75 7-73 7-1 7 0 7-1-46-1 5 7 6 5 5-1 6 3 5 3 6 6 5-7 6-8 5 0 6-4 5"/><path class="p6" d="M1319 1401l0 6-1-3-1 3 0 4 1 3 0 4-1 3 1 4 0 3-6-40 1 5-1 4-2 5 3 4 0 5-2 4-3 5-1 4 1 4 9 71-1 5 0-112 1 7-3 98 3 7-1-114-3 5 6 4 2 4"/><path class="p8" d="M1312 1480l-1 4 1 5-1 4 0 4 1 5-1-114 1 7-1 6 1 7 6-17 0 4-2 5-1 5 1 4 0 5-1 4-1 5 0 5-1 4 2 5 1 5 0 4 1 30-1 3-2 4 2 3-2 4 0 3 2 4-3 3-2 4 4-114-1 4 0 3 2 3 3 76-4 4-2 3 2 8 1 9 0-112-3 4 0 5 1 4 0 4 3 4 0 4 1 4 0 4 0 4 0 4 0 4 0 4-1 4-1 4 0 4 1 4-1 4 0 4 0 4-1 5 1 4 0 4-1 4 1 4 0 4-1 4 0 4 0 4"/><path class="p1" d="M1330 1470l0 6 0 6-1 6-1 7-5-26 0 7 0 7-1 7 2-17 0 4 1 4 0 4-1 5 0 4-1 4-1 4 1-114-1 6 0 5-1 6 1 5"/><path class="p5" d="M1314 1442l0 4 2 5 7-44 0 4-2 4 3 4-1 4 2 5-4 4-5 4 0 4 3 4-3 4 2 4-5 5 7 4 1 4 2 4-15 13 1 5 0 6 0 5 3 6-1-114-3 4-1 4 0 4 4 4 2 4"/><path class="p3" d="M1335 1428l-4 13 1 4-2 4 1 5-1 4 4 5-3 4 1 4 2 5 24-88 8 7-15 18-7 7-1 6 11 6-6 6-12 7 3 6 3 6 7 6-25-12 6 4-4 5-3 5-9 4 12 5-8 5 4 4-2 5-1 4 5 5-3 5 0-114-5 4 1 3-1 4 11 3 2 4-9 3-7 4 2 3-3 4 22 0 0 8-1 9 3 9-2 9 2 9-4 9-2 9"/><path class="p9" d="M1323 1429l-1 3 1 4-1 3 1 4 0 3 0 4 1 3-5-26 1 3 0 4 1 3-1 4 0 3 0 4 0 3 0 4-1 3 0 4 1 3 0 4 0 3 3 15 0 3-1 4 1 3 1 4 1 3-2-111 1 9-2 9-5 2-3 4 1 4-1 4 0 4 1 4 1 4-4 3 2 4 1 4 2 4-2 4"/><path class="p1" d="M1321 1431l1 4 0 3 0 4 0 3 0 4 0 3 0 4 1 4 1 3 0 4 0 3-1 4 0 3 0 4 0 3 1 4 0 4 0 3 0 4 1 3-1-114 0 8 0 7"/><path class="p2" d="M1322 1407l-1 6-1 6 1 6 2 6 0 6 1 6 0 6 2 6-1 6 2 6-1 7 0 6-1 6 1 6-1 6 1 6-1-114-1 4 0 3 1 4-1 3 84 4-79 3-1 14-1 4 0 3-3 4-1 3 1 4 1 3-1 4 0 3 2 4 0 3-1 4 0 3 1 4 0 3-1 4 2 3-1 4-1 3 2 4 0 3 1 4-2-82-1 3 1 4 1 4 0 58-1 5 2 5 0 5-1-113-6 17 2 4 1 4 1 4 0 4 1 5-1 4-1 4-1 4 1 4 0 4 2 4 2 4 1 5-1 4 0 4 0 4 0 4 2 25-1 4 0-114 1 4 0 3-2 4 0 3-1 4 2 4 49 3-47 4-1 3-1 4 0 3 0 4"/><path class="p4" d="M1332 1406l-2 4-14 65 0 4 1 5 1 4 1 5-2 4-1 5 2-114 0 6 0 7 13 78-1 4 5 4-2 5-5 4"/><path class="p3" d="M1331 1464l2 3-1 4 0 4 0 4-2 4-1 4 1 4 1 3 1 4 5 4 4-114-1 5-1 4 0 4-1 34 0 7 4 8-1 8-1 7-2 8 1-71-5 36 1 5-4 4-3 5-1 4 0 5-1 4 2 5-3 31 2-113 0 4 1 4 3 3-2 4 1 3-1 4 0 3 12-3 1 7 6 8 2 7-4 7-3 7-2 7 0 8-3 7-12 7 11 7-1 8-7 7-2 7 10-113 11 7 11 6-1 6-5 6-9 6-2 6 8 6 2 6 5 6-8 6 0 6 1 6 3 7-12 6-7 6-5 6 0 6 14 6-7-113 3 6-9 5 5 5 4 5-7 6-2 5 4 5-10-37-1 7-4 6 6 7 4 6 5 7 4 6-11 6 7 7-8 6-4 7-6 6 5 6 3 7 4 14 0 4 1 3 0 4-2 3 0 4-2-114 0 4 2 4-3 4-2 4 3 4-3 4 4 4 6 4 2 4 0 4-3 4-2 4"/><path class="p8" d="M1317 1405l-1 4-1 5 1 4-1 4 0 4-1 4 1 55 0 4 0 4 0 5 1 4 1-114-1 8 1 8 0 8-1 7 1 8 0-37 1 4-2 4 0 40-1 5 2 4-3 34-1-45 4 4 0 4-2 3 2 4 0 3-1 4 2 3-1 4 1 3 0 4 0 4-3 3-1 4"/><path class="p7" d="M1315 1426l1 7 4 8-1 7-1 8-1 7 3 7-1 8 2 7-1 8 0 7-1-112-3 5-2 5 0 5 1 5 3 5 2 5 4 5-1 5-2 5-7-18 0 3 0 4"/><path class="p9" d="M1318 1460l2-8-1 5-1 5 1 5 0 5 0 5 0 5-1 5 1 5 0 5 0 5-4-109 0 4-2 4"/><path class="p6" d="M1316 1435l0 4 1 4 1 4-1 4-3 5 2 4 0 4 0 4 2 4 0 5-1 4 1 0 0 8-1 7 1 8-3-56 1-60 1 8 0 7-1-15-1 5 1 4 0 5 1 5 0 4 1 5-1 4-2 5-4 4 4 5 5 68 0-114 1 7-1 6-5 6-3 6-3 7-1 6 4 6-5 6 1 7 1 6-2 6 5 6-2 7 1 6 3 6-1 6 4-10 0 7 1 6 0 7-1 6 1-113-2 5-1 5 1 5-1 5 0 5 1 5 0 5 1 5 0 5 0 5 0 5 0 5 0 5 0 5 0 5-1 5-1 5"/><path class="p5" d="M1317 1413l0 4 0 4-1 4 0 4-1 4 0 4 0 3 2 4 0-33-1 7-1 77"/><path class="p1" d="M1327 1412l-1 4 0 4 0 4 0 4 0 4 0 3 0 4 0 4 1 4 0 4-1 4-1-20 0 5 3 48-2 4-2 5 1 5 0-114-1 4 0 4 1 4 0 4-2 4 1 4-2 3-1 4 0 4 0 4"/><path class="p5" d="M1318 1499l-1-111 0 9 0 8 1 8 0 8 1 9-2 8"/><path class="p3" d="M1330 1442l6 4 0 4-1 4-1 4 1 4-2 4 4 4 0 4-1 4-4-85 0 5 1 5-10 86 1 5-2 5 4-111 83 7-71 11-4-16-1 5-2 4-1 4-3 4 2 4-2 4 1 4 8 46 3 4 4 4-3 4-9 4 6 4 1 5 1 4 5 4-2 4 10-114 9 8-2 8-6 8 2 7-3 8-11 8 8 7-2 8-10 8-2 7 17 8-22 6 9 4"/><path class="p6" d="M1316 1482l0 4 1 4-1 4 1 4 0 4 0-114 1 4-1 4 1 4-1 4 1 4-5 89 0 5 3-114-1 34 1 7-1 7 1 7 0 7 0 6 1 7 0 7 1 7 0 7-1 6 1 7-1 7 2-111-2 8 1 8-1 8 0 9 0 8 0 8-2 33 4 4 3 3 3 4-3 4 0 3-1 4-3-106 0 5 1 6-3 79 1 8-1 7-3-87 1 5 1 4-1 5 2 5-1 4 3 5-1 32-2 5 1-43 0 4 0 3 1 4-1 4 0 4 0 4 0 4-1-55 0 9 1 10-4 10 2 9 1 10-4 10 1 9 2 10-1 10 3-44"/><path class="p8" d="M1314 1490l0 4 0 4-1 4-1-114 0 5 1 5 2 5 0 47 1 9 1 8-1 8-1 8 0 9 1 8 1-112 0 4-1 4 4 36 3 3-2 4 2 4 0 57 0 4-10-111-3 9 5 10-1 9-2 9-3 9 4 10-2 9 0 9 0 9-3 10 1 9 3 9 1-113-2 6-1 5-2 6 3 5-1 6-3 5 2 6 0 5-1 6 2 5 4 6 0 5-4 6 0 5 1 6 5 5-1 6-2 5-1 6 4-108 1 6-1 6 1 6-1 6-1 5 0 6 1 6-4 17 10 6 0 6-2 6 2 5-10 6 9 6-3 6 0 5-3 6 1 6 4 0-1-113-4 42-1 5 0 4 4 4-2-58-1 10-1 10 1 9 0 10 0 10-1 9-3 16 0 3-2 4 0 4 0 4 2 4 1 4 0 4 0 3 0 4-1 4 0 4 0-112-1 8 1 8 0 8-1 8 2 8 4 8-5 8 0 8 0 8 1 8 0 8-1 8 1 8 1 8 0-111"/><path class="p2" d="M1329 1459l-2 4 2 4 0 4 1 4 1 4-2 3-2 4-2-77 1 5 0 5-2 5 0 5-3 5-1 5 1 5-1 5-1 5 0 5 1 5-1 5 2 5-1 5 1 5 4-85 0 4 1 98 4-94 0 6 1 5 56 5-58 6 1 5-1 5 0 6 1 5-1 49 1 5-18-81 3 5 7 4 6 4 6 4-5 4 1 4 4 4-5 5-5 4 12-19-1 4-1 5 0 4 3 5 2 5-24-11-1 9-4 8 5 8-1 8-6 9 2 8"/><path class="p7" d="M1318 1446l0 4 0 3-2 4 0 4-1 3-2 4 0 3 2-76 0 4-1 4 0 5 0 4-1 4 0 5-1 4 1 4"/><path class="p4" d="M1314 1408l-1 5-2 5 8 5 1 5-3 5 9 5-7 5-5 4 3 5-2 5-1 5-2 5-2 5 4 5-3 5 2 5-2 5 17-82 1 4-1 3 2 4 1 4 2 3-10 28-7 5"/><path class="p9" d="M1311 1402l1 7 5 7-1 50 0 6-1 5 0 5 3 6 1 5 9-37 1 9 0 10 2 10-2 9 1 10 1-113-2 4 1 5-2 5"/></g></g><clipPath id="kc65"><rect x="1428" y="1382" width="127" height="127"/></clipPath><g transform="scale(.5)"><g clip-path="url(#kc65)"><path class="p8" d="M1472 1489l2 4 5 4 4 5 12-14-4 5-1 4 2 5-3-114 3 5 4 3-1 4 1 4-1 3-2 4 0 4-1 4-1 4-1 3-1 4"/><path class="p5" d="M1486 1480l-2 4-5-30 5 8 3 7 3 8 4 8 5 7 3 8 0-112-18 19 0 4 3 4 1 3-1 4 0 4 2 3-2 4 0 4-1 4-1 3 0 4 1 4 2 4 1 3 0 4 3 4-2 3-2 4 0 4 0 4 0 3 3 4-2 4 1 4-3 3 0 4 1-112-1 7-2 6 1 7 0 7-1 7 0 7 1 6-1 7 3 7 0-26-3 4-6 4-1 3 5 4-3 4 4 4 7 4-1 4 3 4 0 3-3 4-3 4"/><path class="p1" d="M1474 1388l1 5 1 4-1 4 1 5 0 4-1 5-2 4 1 4-1 5-1 4-1 4-11 13 1 5 2 4 3 5 0 4-1 4-5 5-6 4 3 4 13-84 0 4 0 4 0 4 0 4 0 4 2 4-1 4 1 4-1 4 2 4-2 4 0 4 1 4 0 4 1 4-1 4 1 4-1 4 1 4 0 4 1-40-1 4 1 3 0 4 0 3 0 4 3-50 0 7 3 6 2-15-6 79 0 3 0 4"/><path class="p3" d="M1469 1401l1 6 0 6 0 7-1 6-2 6 0 6 1 7-2 6-1 6-2 6 13 29 0-57 0 3 1 4-3 3 2 4 0 3-1 4 1 3 2 4 0 3-2 3-2 4-1 3 1 4 0 3 0 4 1 3 1 4 0 3 3 4-2 3-2-113 1 4-1 5-1 4 1 4-2 5 2 4 0 5 1 4 0 5-2 4 2 5 0 4-3 4 1 5 0 4-2 5-1 4 2 5 2 4 1-5 2 5 1 5 0 5-3 5-1 4-5-82-1 3 0 4-2 3 0 4-1 3 0 4 0 3 8 10 0 31-2 4 0 4-1 4 2 3 0 4 2 4 4-91 0 4-7 82 1 4 1 3-1-114 1 5-1 4 0 4-1 5 2 4-1 5 0 4 0 4"/><path class="p2" d="M1465 1441l-3 4 3-57-1 7 6 75 1 6 2 6 0 6 0 7-1 6 0-113 2 4 0 4 11 108 1-114 0 4-3 3-2 3-3 4 2 3-2 4-3 3 1 4 3 3-2 4 5 3 4 4-8 67-1 5-1-114 0 4-1 3 0 4 0 3-31 4 27 53 2 4-2 3 2 4 1 4-1 3 1 4 0 3 0 4 1 3 1 4-1 3 1 4-1-112 0 8-3 8 3 7-1 8 1 8 0 7 17-43-7 7-11-10 2 5 2 4-4 4 4 4 1 4 0 4 3 4-2 4 2 4-1 4 1 4 0 4 5 4 2 4-2 4-2 4-9 4-1 4 1 5-4 4 3 4 1 4-2 4 3 4 2 4-5 4 0 4-1-114 3 4 3 4-5 4-3 4 0 4 1 4 4 3 2 4-3 4 0-20-1 9 0 10-4 10-2 9-2 10-1 10 3 9 7 10 0 10 7 9-1-111 3 4 2 3 2 4-3 3 3 14-2 3-3 4"/><path class="p6" d="M1489 1484l1 4-1 8-5 4 5-102-1 5 4 5 5 4 1 5 1 5 3 5 2 5-3 5-4 4-3 5 3 5 2 5 5 5 0 4-11-37 1 7 0 6 1 7 0 6 0 7 0 7 0 6 2 7 0 6-1 7 0 7 0-113-2 4-13 68 0 7 3 6 3 7-5 7-4 7 5 7-1-113 11 116 2-111 1 33-9 4 0 3-3 4-2 3-5 4-2 3 0 4 7 3-6 3 5 4 2 3 5 4"/><path class="p7" d="M1484 1434l8-46-1 4 1 4 1 4 0 3"/><path class="p9" d="M1500 1471l0 4-3 3 9 4"/><path class="p2" d="M1474 1432l-1 4 3-22 1 7-1 6 0 6-1 7 1 6 0 7-1 6 2 6-1 7 0 6-2 7-24 6 24 7 1 6 0-114 2 4 0 3-1 4-2 3 0 4-29 3 29 4 1 3 0 4 1 3-4 76-2-113-1 5 3 4 1 4 3 4 1 4 2 4-3 4 4 4 3 5 1 4 3 4-5 4 0 4 0 4 2 4-28 4 27 5 2 4 4 4 8 4-3 4 1 4-7 4-8 4 0 5-6 4 1 4-3 4 11-81-7-35 1 4 0 4 2 4 0 4 1 4-1 4-1 4-1 4 1 4 0 4-1 4 2 3 0 4-2 4-1 4 1 4 0 4-16 4 19 4-1 4 0 4-1 4-1 4 0 3-1 4 1 4-3-57 4 4-10-24 2 7 3 7 8 7-23 7 27 7 2 7-4 7-15-46-2 5 7 6-2 5-3 6 1 5 4 6-1 5 5 6 1 5-2 6 1 5"/><path class="p3" d="M1472 1428l3 13-1 4 2 4 1 5 0 4-2 5 1 4-1 4 0 5-10-88 1 7 2 18-1 7-4 6-1 6 5 6 5 7-3 6-3 6-5 6 20-12-1 4-2 5-1 5 7 4-5 5 0 5-4 4 3 5 3 4-7 5 9 5 6-114-3 4 3 3-2 4-4 3-3 4 3 3 1 4-3 3 3 4-5 0-2 8 2 9 0 9 0 9-2 9 1 9 0 9"/><path class="p9" d="M1510 1429l22 3 0 4-24 3 0 4-2 3 0 4-1 3 2-26-1 3 25 4-25 3-2 4 1 3 2 4 9 3-7 4-1 3-1 4 0 3 0 4 20 3-28 15 2 3 6 4 5 3-3 4-2 3 0-111 7 9 6 9 12 2 1 4-9 4 5 4 2 4-9 4 1 4 2 3-5 4-2 4-6 4 0 4"/><path class="p7" d="M1490 1406h0"/><path class="p1" d="M1477 1470l-1 6 2 6 2 6 0 7-2-26 0 7 0 7-1 7-3-17 0 4-1 4-1 4 1 5 1 4-1 4 1 4 1-114-1 6 0 5 0 6 1 5"/><path class="p4" d="M1485 1432l0 3-1 3-2 4 1 3-1 4 1 3 0 4 2 3-1 4-2 3 0 3-1 4 0-18 1 5 0 4-1 4-1 5 0 4 0 5 2 4 0 5-2 4 0 5 2 4 0-113-2 4 0 5-2 4-1 5 0 4-1 5 2 4 0 5 3 4 0 5-2 5 1 4 0 5 0 4-1 5 0 4-2 5 0 4 0 5-1 4-2 5 3 4-1 5"/><path class="p8" d="M1498 1480l1 4-1 5 2 4 1 4-1 5 0-114-1 7-2 6 1 7-2-17 0 4-1 5 0 5 1 4 2 5 0 4 0 5 0 5 1 4-3 5 0 5 0 4-3 30 0 3 2 4 3 3-1 4 3 3 0 4 2 3-8 4 2-114 8 4 1 3 2 3-5 76-2 4-2 3 2 8-1 9-1-112 1 4 3 5-2 4 1 4-1 4-3 4 0 4 0 4-1 4 0 4 1 4-1 4-1 4 1 4 3 4 0 4 1 4-1 4-2 4 1 5 0 4-1 4 0 4-3 4 2 4-1 4 0 4 0 4"/><path class="p6" d="M1488 1401l-1 6 3-3 0 3-2 4 1 3 1 4-1 3-1 4 0 3-1-40-3 5 1 4 4 5-3 4-5 5 0 4 6 5-1 4 0 4-1 71 1 5 0-112-2 7 1 98 3 7-1-114 1 5 0 4-3 4"/><path class="p5" d="M1486 1442l1 4 1 5 0-44 5 4-4 4-2 4 0 4 2 5 0 4 1 4-3 4 0 4 1 4 0 4 5 5-8 4 2 4 4 4 9 13-3 5-4 6-4 5-1 6 8-114 0 4 4 4 6 4 0 4 8 4"/><path class="p9" d="M1510 1460l-2-8 1 5-1 5-3 5 0 5 1 5 0 5 19 5-7 5-11 5 2 5 0-109 12 4-8 4"/><path class="p4" d="M1477 1406l3 4 3 65-1 4-2 5 2 4 1 5 2 4-1 5-2-114-1 6-1 7-3 78 0 4 3 4 4 5 1 4"/><path class="p2" d="M1475 1407l1 6-1 6 0 6-2 6 2 6 0 6 1 6-2 6 1 6-1 6 1 7 2 6 1 6 0 6-1 6 0 6-1-114 0 4 1 3-1 4 1 3-31 4 29 3-2 14 1 4 2 3 0 4 1 3-2 4 0 3 0 4 0 3-1 4-1 3 1 4 1 3 1 4-1 3-1 4-1 3 0 4 1 3 0 4 2 3-2 4 1-82 0 3 0 4-2 4 3 58 1 5-1 5 1 5 0-113 3 17-1 4-1 4 0 4 1 4-1 5-1 4 1 4 0 4-1 4 0 4 0 4 1 4-1 5 0 4-1 4 1 4 0 4 2 25 1 4 2-114-1 4-2 3 1 4-2 3 2 4-1 4-28 3 27 4 2 3 0 4-1 3-1 4"/><path class="p7" d="M1493 1426l9 7-3 8-2 7-8 8-1 7-2 7-1 8-1 7-2 8-3 7-2-112 4 5 7 5 6 5 1 5-3 5-4 5-4 5 4 5 3 5-3-18-1 3 1 4"/><path class="p3" d="M1476 1464l-2 3 0 4-1 4 1 4 0 4 0 4-1 4-2 3 2 4-1 4-3-114-1 5 1 4-3 4 8 34 0 7-1 8-1 8-1 7 1 8 3-71-2 36-2 5 3 4 0 5 1 4 0 5 1 4-1 5 4 31 0-113 0 4-1 4 0 3 0 4 0 3 0 4-1 3-5-3-2 7 1 8-2 7 4 7 4 7 6 7-4 8 2 7-6 7-2 7 1 8 6 7-3 7-2-113-5 7-5 6-4 6 4 6 2 6-2 6-3 6-2 6-3 6 0 6 2 6-1 6 0 7 6 6 3 6 3 6-6 6 3 6 6-113-5 6 6 5-6 5-1 5 3 6 3 5-2 5 1-37 0 7 3 6-6 7 2 6 0 7-2 6 2 6-2 7 8 6 3 7 0 6-1 6-4 7 1 14-1 4 0 3 0 4 2 3-2 4 0-114 1 4 1 4 0 4 2 4-1 4 1 4-2 4-3 4-1 4 0 4 1 4 3 4"/><path class="p5" d="M1486 1413l-1 4 0 4 0 4 1 4 0 4-1 4 1 3-1 4 2-33 0 7 13 77"/><path class="p8" d="M1492 1405l3 4 1 5 1 4-1 4 0 4-1 4-3 55 1 4 1 4 0 5-2 4-1-114 1 8 0 8 1 8 1 7 1 8 2-37-1 4-1 4 4 40-2 5 0 4-3 34 5-45-1 4 0 4 1 3 0 4 0 3 1 4-1 3-1 4-1 3 1 4 1 4-1 3 0 4"/><path class="p6" d="M1487 1435l1 4-1 4-1 4 0 4 3 5 0 4-1 4 1 4-1 4-1 5 0 4 1 0 1 8 0 7 0 8 2-56-1-60 0 8-1 7 0-15-1 5 2 4 0 5-1 5 0 4-1 5 0 4 2 5 1 4-3 5-5 68-4-114 2 7-2 6 5 6 3 6-1 7-2 6-4 6 0 6 5 7 5 6 1 6-1 6 3 7-2 6 2 6 2 6-7-10 1 7-1 6 1 7 2 6-1-113-2 5 0 5 0 5 0 5-1 5 1 5-1 5-2 5 1 5-1 5-1 5 0 5-1 5 0 5 0 5 0 5 1 5"/><path class="p1" d="M1474 1431l0 4 1 3 1 4-1 3 0 4 0 3 1 4-1 4 1 3 0 4 1 3-1 4 1 3-1 4 1 3 0 4 0 4 0 3 0 4 0 3-1-114-1 8 1 7"/><path class="p7" d="M1493 1446l0 4 0 3 2 4-1 4-1 3 0 4 1 3-5-76 1 4 0 4 1 5 1 4 1 4 1 5 3 4 2 4"/><path class="p2" d="M1477 1459l1 4-1 4 0 4 1 4-1 4 0 3 0 4 4-77-1 5 1 5 0 5 2 5 0 5 0 5 1 5 0 5 0 5 0 5 0 5 2 5-2 5 0 5 0 5-6-85-1 4-5 98 7-94-1 6-1 5-25 5 24 6 1 5 0 5-1 6-1 5-3 49 0 5 20-81-3 5-5 4-5 4 0 4 2 4 1 4 1 4 2 5-1 4 1-19 1 4-1 5-3 4-2 5-7 5-8-11 3 9 3 8 0 8 0 8-1 9 3 8"/><path class="p6" d="M1490 1482l1 4-2 4 0 4-2 4 2 4 0-114 1 4-1 4-1 4 0 4 0 4 8 89 0 5 0-114-7 34-1 7 1 7-1 7 1 7-1 6-2 7 1 7 0 7-1 7 2 6-1 7-1 7 1-111 0 8-2 8-1 8 0 9-1 8 1 8 3 33 0 4 2 3-3 4 0 4-1 3 3 4-1-106 2 5-1 6-14 79-1 8 1 7 29-87 0 5-5 4 0 5 2 5 5 4-2 5-19 32 1 5 6-43-1 4 1 3-2 4 1 4-1 4-1 4 0 4 0-55-2 9 0 10 0 10-2 9 3 10 2 10-3 9-1 10-1 10-8-44"/><path class="p8" d="M1499 1490l0 4 0 4-2 4 1-114-1 5-1 5 1 5-1 47-1 9-1 8 1 8 1 8 1 9-1 8-2-112 1 4 1 4 1 36 3 3-3 4-2 4-2 57 0 4 3-111 3 9-2 10 4 9 0 9 1 9-8 10 2 9 2 9-1 9 1 10 1 9 0 9 6-113-2 6-1 5-4 6 1 5-2 6 5 5-1 6-5 5-3 6-3 5 6 6-1 5 2 6-2 5-3 6-3 5-1 6 1 5 4 6 3-108-1 6 2 6-1 6 0 6 1 5 0 6-1 6 9 17-8 6 0 6 0 6-5 5 7 6-5 6 5 6-6 5 2 6 0 6-6 0-3-113 32 42-6 5-1 4-2 4-8-58-2 10 0 10-1 9 0 10-1 10 1 9 0 16 0 3 2 4 0 4 2 4-1 4 0 4 2 4-3 3 1 4 0 4-2 4-3-112 1 8 0 8 0 8 0 8 0 8-3 8 4 8-1 8 2 8 1 8 1 8-1 8-1 8 0 8-1-111"/><path class="p3" d="M1476 1442l-4 4 0 4 2 4 0 4 2 4 0 4-2 4 0 4 0 4 3-85 1 5-1 5 6 86-2 5 0 5 6-111-33 7 19 11-1-16-1 5 2 4 1 4 2 4-2 4 3 4 2 4-7 46 0 4 4 4-7 4-1 4 5 4 0 5-2 4-7 4 1 4-6-114-3 8-5 8 1 8 1 7-3 8 4 8-5 7-1 8-1 8 3 7-2 8 29 6 1 4"/><path class="p4" d="M1483 1408l-1 5 3 5-3 5 3 5 0 5-2 5-1 5 3 4 1 5-2 5 2 5 1 5 4 5 0 5-1 5-2 5 3 5-12-82 1 4 0 3-2 4 0 4 0 3 4 28 0 5"/><path class="p5" d="M1484 1499l2-111 0 9-2 8-1 8-1 8 2 9 0 8"/><path class="p9" d="M1531 1402l1 7 1 7-31 50-4 6-3 5-2 5 32 6-27 5 34-37-10 9-7 10-3 10 2 9-1 10 3-113-1 4 3 5-2 5"/><path class="p1" d="M1476 1412l0 4 0 4 0 4 0 4 0 4 1 3 0 4 0 4-2 4 1 4 2 4-4-20 0 5-4 48-3 4 0 5 5 5 3-114-1 4-1 4-4 4-1 4 2 4 1 4 1 3 2 4 1 4 2 4"/></g></g><g transform="scale(.5)" stroke-width=".9"><path d="M787 700V700l2-1 1 0 2 0 1-1 2-1 2-1 1 0 2-1 1-1 2-1 2 0 1-1 2 0 1 0 2 1 2 0 1 0 2 0 1 1 2 0 2-1 1 0 2 0 1-1 2 0 2 0 1 0 2 0 2 1 1 0 2 1 1 1 2 0 2 0 1-1 2-1 1-2 2-2 2-3 1-4 2-3 1-3 2-3 2-1 1-1 2 1 1 1 2 3 2 3 1 3 2 4 2 3 1 3 2 2 1 2 2 1 2 1 1 1 2 0 1 1V700Z" fill="#5e4fa2" fill-opacity="0.30"/><path d="M787 700l2-1 1 0 2 0 1-1 2-1 2-1 1 0 2-1 1-1 2-1 2 0 1-1 2 0 1 0 2 1 2 0 1 0 2 0 1 1 2 0 2-1 1 0 2 0 1-1 2 0 2 0 1 0 2 0 2 1 1 0 2 1 1 1 2 0 2 0 1-1 2-1 1-2 2-2 2-3 1-4 2-3 1-3 2-3 2-1 1-1 2 1 1 1 2 3 2 3 1 3 2 4 2 3 1 3 2 2 1 2 2 1 2 1 1 1 2 0 1 1" fill="none" stroke="#5e4fa2" stroke-opacity=".7"/><path d="M792 700V700l1-1 2 0 2-2 1-3 2-3 1-5 2-4 2-3 1-2 2-1 1-1 2 0 2 2 1 3 2 3 1 4 2 2 2-1 1-4 2-6 1-10 2-11 2-12 1-13 2-13 2-11 1-7 2-3 1 2 2 6 2 7 1 8 2 9 1 10 2 9 2 9 1 7 2 5 1 3 2 1 2 1 1 1 2 2 1 2 2 3 2 4 1 3 2 4 2 2 1 2 2 1 1 1V700Z" fill="#3d95b8" fill-opacity="0.30"/><path d="M792 700l1-1 2 0 2-2 1-3 2-3 1-5 2-4 2-3 1-2 2-1 1-1 2 0 2 2 1 3 2 3 1 4 2 2 2-1 1-4 2-6 1-10 2-11 2-12 1-13 2-13 2-11 1-7 2-3 1 2 2 6 2 7 1 8 2 9 1 10 2 9 2 9 1 7 2 5 1 3 2 1 2 1 1 1 2 2 1 2 2 3 2 4 1 3 2 4 2 2 1 2 2 1 1 1" fill="none" stroke="#3d95b8" stroke-opacity=".7"/><path d="M782 700V700l2-1 1 0 2 0 2-1 1 0 2 0 1-1 2-1 2 0 1-1 2-1 1 0 2-1 2 0 1 0 2 0 1 0 2 0 2 0 1 1 2 0 1 1 2 1 2 0 1 1 2 0 1 1 2 0 2 1 1 0 2 0 2-1 1 0 2 0 1-1 2-1 2-1 1-1 2-2 1-1 2-1 2-1 1-1 2-1 1-1 2 0 2 1 1 0 2 1 1 1 2 2 2 1 1 1 2 2 2 1 1 1 2 1 1 0 2 1 2 0 1 0 2 1V700Z" fill="#86cfa5" fill-opacity="0.30"/><path d="M782 700l2-1 1 0 2 0 2-1 1 0 2 0 1-1 2-1 2 0 1-1 2-1 1 0 2-1 2 0 1 0 2 0 1 0 2 0 2 0 1 1 2 0 1 1 2 1 2 0 1 1 2 0 1 1 2 0 2 1 1 0 2 0 2-1 1 0 2 0 1-1 2-1 2-1 1-1 2-2 1-1 2-1 2-1 1-1 2-1 1-1 2 0 2 1 1 0 2 1 1 1 2 2 2 1 1 1 2 2 2 1 1 1 2 1 1 0 2 1 2 0 1 0 2 1" fill="none" stroke="#86cfa5" stroke-opacity=".7"/><path d="M792 700V700l1-1 2-1 2-2 1-3 2-3 1-4 2-3 2-2 1-1 2 1 1 2 2 1 2 0 1 0 2 0 1-1 2-1 2-1 1-1 2-2 1-2 2-3 2-4 1-4 2-5 2-6 1-4 2-3 1-3 2-3 2-4 1-6 2-6 1-5 2-1 2 2 1 6 2 9 1 11 2 10 2 8 1 6 2 5 1 3 2 2 2 2 1 3 2 2 2 1 1 2 2 2 1 2 2 2 2 1 1 1 2 1V700Z" fill="#d6ee9b" fill-opacity="0.30"/><path d="M792 700l1-1 2-1 2-2 1-3 2-3 1-4 2-3 2-2 1-1 2 1 1 2 2 1 2 0 1 0 2 0 1-1 2-1 2-1 1-1 2-2 1-2 2-3 2-4 1-4 2-5 2-6 1-4 2-3 1-3 2-3 2-4 1-6 2-6 1-5 2-1 2 2 1 6 2 9 1 11 2 10 2 8 1 6 2 5 1 3 2 2 2 2 1 3 2 2 2 1 1 2 2 2 1 2 2 2 2 1 1 1 2 1" fill="none" stroke="#d6ee9b" stroke-opacity=".7"/><path d="M779 700V700l1-1 2 0 2-1 1-1 2-2 2-1 1-2 2-2 1-2 2-1 2 0 1 0 2 0 1 2 2 1 2 2 1 2 2 1 1 1 2 1 2 1 1 0 2-1 1 0 2-2 2-1 1-2 2-3 1-3 2-2 2-3 1-3 2-2 2-2 1-1 2-1 1 0 2 0 2 0 1 1 2 1 1 1 2 1 2 1 1 1 2 1 1 1 2 1 2 2 1 1 2 2 1 2 2 2 2 2 1 2 2 1 2 2 1 1 2 1 1 0 2 0 2 1V700Z" fill="#ffffbe" fill-opacity="0.30"/><path d="M779 700l1-1 2 0 2-1 1-1 2-2 2-1 1-2 2-2 1-2 2-1 2 0 1 0 2 0 1 2 2 1 2 2 1 2 2 1 1 1 2 1 2 1 1 0 2-1 1 0 2-2 2-1 1-2 2-3 1-3 2-2 2-3 1-3 2-2 2-2 1-1 2-1 1 0 2 0 2 0 1 1 2 1 1 1 2 1 2 1 1 1 2 1 1 1 2 1 2 2 1 1 2 2 1 2 2 2 2 2 1 2 2 1 2 2 1 1 2 1 1 0 2 0 2 1" fill="none" stroke="#ffffbe" stroke-opacity=".7"/><path d="M800 700V700l1-1 2 0 2-1 1 0 2-1 1-2 2-3 2-6 1-7 2-8 1-6 2-4 2-1 1 3 2 5 1 4 2 3 2 1 1-1 2 0 2 0 1 2 2 2 1 2 2 3 2 2 1 0 2-1 1-2 2-1 2 0 1 3 2 4 1 4 2 3 2 2 1 1 2 1V700Z" fill="#fed481" fill-opacity="0.30"/><path d="M800 700l1-1 2 0 2-1 1 0 2-1 1-2 2-3 2-6 1-7 2-8 1-6 2-4 2-1 1 3 2 5 1 4 2 3 2 1 1-1 2 0 2 0 1 2 2 2 1 2 2 3 2 2 1 0 2-1 1-2 2-1 2 0 1 3 2 4 1 4 2 3 2 2 1 1 2 1" fill="none" stroke="#fed481" stroke-opacity=".7"/><path d="M780 700V700l2-1 2 0 1-1 2-1 2 0 1-1 2 0 1 1 2 0 2 1 1 1 2 0 1-1 2-2 2-4 1-4 2-6 1-4 2-2 2 0 1 1 2-2 1-5 2-8 2-9 1-11 2-12 1-13 2-14 2-13 1-9 2-2 2 7 1 12 2 13 1 13 2 11 2 8 1 4 2 1 1 0 2-1 2-1 1 0 2 1 1 3 2 4 2 5 1 5 2 4 1 5 2 5 2 6 1 5 2 5 2 3 1 2 2 1V700Z" fill="#f98e52" fill-opacity="0.30"/><path d="M780 700l2-1 2 0 1-1 2-1 2 0 1-1 2 0 1 1 2 0 2 1 1 1 2 0 1-1 2-2 2-4 1-4 2-6 1-4 2-2 2 0 1 1 2-2 1-5 2-8 2-9 1-11 2-12 1-13 2-14 2-13 1-9 2-2 2 7 1 12 2 13 1 13 2 11 2 8 1 4 2 1 1 0 2-1 2-1 1 0 2 1 1 3 2 4 2 5 1 5 2 4 1 5 2 5 2 6 1 5 2 5 2 3 1 2 2 1" fill="none" stroke="#f98e52" stroke-opacity=".7"/><path d="M782 700V700l2-1 1 0 2-1 2-1 1-1 2-1 1 0 2 0 2 0 1-1 2 0 1-2 2-3 2-4 1-7 2-8 1-7 2-5 2-5 1-5 2-6 1-5 2-5 2-2 1-2 2-3 1-6 2-6 2-4 1 0 2 2 2 3 1 1 2-1 1-2 2 0 2 2 1-1 2-6 1-9 2-8 2 0 1 12 2 19 1 21 2 16 2 10 1 7 2 4 1 5 2 5 2 4 1 3 2 2 2 1 1 1V700Z" fill="#dd4a4c" fill-opacity="0.30"/><path d="M782 700l2-1 1 0 2-1 2-1 1-1 2-1 1 0 2 0 2 0 1-1 2 0 1-2 2-3 2-4 1-7 2-8 1-7 2-5 2-5 1-5 2-6 1-5 2-5 2-2 1-2 2-3 1-6 2-6 2-4 1 0 2 2 2 3 1 1 2-1 1-2 2 0 2 2 1-1 2-6 1-9 2-8 2 0 1 12 2 19 1 21 2 16 2 10 1 7 2 4 1 5 2 5 2 4 1 3 2 2 2 1 1 1" fill="none" stroke="#dd4a4c" stroke-opacity=".7"/><path d="M772 700V700l2-1 2 0 1-1 2-2 1-1 2-2 2-2 1-2 2-1 2 0 1 0 2 0 1 0 2 0 2-1 1-2 2-2 1-4 2-3 2-2 1-2 2 0 1 2 2 2 2 3 1 4 2 2 1 2 2 1 2 0 1-1 2-3 1-4 2-4 2-5 1-4 2-3 2-1 1 0 2 2 1 2 2 3 2 3 1 4 2 3 1 3 2 4 2 3 1 3 2 2 1 2 2 1 2 1 1 0 2 1V700Z" fill="#9e0142" fill-opacity="0.30"/><path d="M772 700l2-1 2 0 1-1 2-2 1-1 2-2 2-2 1-2 2-1 2 0 1 0 2 0 1 0 2 0 2-1 1-2 2-2 1-4 2-3 2-2 1-2 2 0 1 2 2 2 2 3 1 4 2 2 1 2 2 1 2 0 1-1 2-3 1-4 2-4 2-5 1-4 2-3 2-1 1 0 2 2 1 2 2 3 2 3 1 4 2 3 1 3 2 4 2 3 1 3 2 2 1 2 2 1 2 1 1 0 2 1" fill="none" stroke="#9e0142" stroke-opacity=".7"/></g><g transform="scale(.5)" stroke-width=".9"><path d="M916 835V834l2-5 2-12 1-9 2-2 2 16 1 8 2 4 1 0V835Z" fill="#5e4fa2" fill-opacity="0.30"/><path d="M916 834l2-5 2-12 1-9 2-2 2 16 1 8 2 4 1 0" fill="none" stroke="#5e4fa2" stroke-opacity=".7"/><path d="M912 835V835l1-1 2-1 1-4 2-7 2-13 1-16 2-13 2-2 1 14 2 19 1 14 2 6 2 1 1 1 2 1 1 0 2 1 2 0 1 0 2-1 1 0 2 0 2 0 1 0 2 0 1 0 2 0V835Z" fill="#3d95b8" fill-opacity="0.30"/><path d="M912 835l1-1 2-1 1-4 2-7 2-13 1-16 2-13 2-2 1 14 2 19 1 14 2 6 2 1 1 1 2 1 1 0 2 1 2 0 1 0 2-1 1 0 2 0 2 0 1 0 2 0 1 0 2 0" fill="none" stroke="#3d95b8" stroke-opacity=".7"/><path d="M916 835V834l2-1 2-1 1-4 2-8 2-6 1 13 2 7 1 0 2 0 2 1V835Z" fill="#86cfa5" fill-opacity="0.30"/><path d="M916 834l2-1 2-1 1-4 2-8 2-6 1 13 2 7 1 0 2 0 2 1" fill="none" stroke="#86cfa5" stroke-opacity=".7"/><path d="M912 835V835l1-1 2-2 1-2 2-4 2-3 1-3 2-3 2-4 1-6 2-4 1 0 2 4 2 7 1 8 2 5 1 3 2 2 2 0 1 0 2 0 1 0 2 0 2 1 1 0 2 0 1 1 2 0 2 0 1 0V835Z" fill="#d6ee9b" fill-opacity="0.30"/><path d="M912 835l1-1 2-2 1-2 2-4 2-3 1-3 2-3 2-4 1-6 2-4 1 0 2 4 2 7 1 8 2 5 1 3 2 2 2 0 1 0 2 0 1 0 2 0 2 1 1 0 2 0 1 1 2 0 2 0 1 0" fill="none" stroke="#d6ee9b" stroke-opacity=".7"/><path d="M913 835V834l2 0 1-1 2 0 2-1 1 0 2 0 2-1 1-1 2-3 1-3 2-4 2-1 1 0 2 3 1 4 2 3 2 3 1 1 2 0 1 0 2 1 2 0 1 0 2 0 1 0 2 0 2 0 1 0V835Z" fill="#ffffbe" fill-opacity="0.30"/><path d="M913 834l2 0 1-1 2 0 2-1 1 0 2 0 2-1 1-1 2-3 1-3 2-4 2-1 1 0 2 3 1 4 2 3 2 3 1 1 2 0 1 0 2 1 2 0 1 0 2 0 1 0 2 0 2 0 1 0" fill="none" stroke="#ffffbe" stroke-opacity=".7"/><path d="M915 835V834l1 0 2 0 2 0 1 0 2 0 2 0 1-1 2-2 1-2 2-4 2-3 1-1 2 1 1 3 2 2 2 3 1 2 2 1 1 0 2 0 2 0 1-1 2 1 1 0 2 1 2 0 1 0V835Z" fill="#fed481" fill-opacity="0.30"/><path d="M915 834l1 0 2 0 2 0 1 0 2 0 2 0 1-1 2-2 1-2 2-4 2-3 1-1 2 1 1 3 2 2 2 3 1 2 2 1 1 0 2 0 2 0 1-1 2 1 1 0 2 1 2 0 1 0" fill="none" stroke="#fed481" stroke-opacity=".7"/><path d="M921 835V835l2-1 2-4 1-5 2-4 1-21 2-55 2-20 1 63 2 24 1 6 2 4 2 8 1 4 2 1V835Z" fill="#f98e52" fill-opacity="0.30"/><path d="M921 835l2-1 2-4 1-5 2-4 1-21 2-55 2-20 1 63 2 24 1 6 2 4 2 8 1 4 2 1" fill="none" stroke="#f98e52" stroke-opacity=".7"/><path d="M921 835V835l2-2 2-3 1-2 2-3 1-14 2-44 2-53 1 29 2 52 1 22 2 6 2 1 1 0 2 2 1 0 2 2 2 3 1 3 2 1V835Z" fill="#dd4a4c" fill-opacity="0.30"/><path d="M921 835l2-2 2-3 1-2 2-3 1-14 2-44 2-53 1 29 2 52 1 22 2 6 2 1 1 0 2 2 1 0 2 2 2 3 1 3 2 1" fill="none" stroke="#dd4a4c" stroke-opacity=".7"/><path d="M929 835V835l2-1 2-19 1-36 2 23 1 7 2 12 2 9 1 2 2 3V835Z" fill="#9e0142" fill-opacity="0.30"/><path d="M929 835l2-1 2-19 1-36 2 23 1 7 2 12 2 9 1 2 2 3" fill="none" stroke="#9e0142" stroke-opacity=".7"/></g><g transform="scale(.5)" stroke-width=".9"><path d="M1044 970V969l2 0 2-1 1 0 2-1 2 0 1-1 2 0 1-1 2 0 2-1 1 0 2-1 1 0 2-1 2-1 1-1 2-2 1-1 2-1 2 0 1 1 2 1 1 2 2 1 2 2 1 1 2 1 1 0 2 0 2 0 1 0 2 1 2 0 1 1 2 1 1 0 2 1 2 0V970Z" fill="#5e4fa2" fill-opacity="0.30"/><path d="M1044 969l2 0 2-1 1 0 2-1 2 0 1-1 2 0 1-1 2 0 2-1 1 0 2-1 1 0 2-1 2-1 1-1 2-2 1-1 2-1 2 0 1 1 2 1 1 2 2 1 2 2 1 1 2 1 1 0 2 0 2 0 1 0 2 1 2 0 1 1 2 1 1 0 2 1 2 0" fill="none" stroke="#5e4fa2" stroke-opacity=".7"/><path d="M1061 970V969l1 0 2 0 1 0 2 0 2 0 1 0 2 0 1-1 2 0 2 0 1-1 2-1 1-2 2-3 2-4 1-7 2-7 1-8 2-6 2-4 1-1 2 0 2 2 1 3 2 3 1 2 2 2 2 4 1 4 2 2 1 3 2 3 2 4 1 4 2 2 1 2 2 1 2 0 1 1 2 1 1 1 2 1 2 0 1 0 2 0 1 0 2 0 2 0V970Z" fill="#3d95b8" fill-opacity="0.30"/><path d="M1061 969l1 0 2 0 1 0 2 0 2 0 1 0 2 0 1-1 2 0 2 0 1-1 2-1 1-2 2-3 2-4 1-7 2-7 1-8 2-6 2-4 1-1 2 0 2 2 1 3 2 3 1 2 2 2 2 4 1 4 2 2 1 3 2 3 2 4 1 4 2 2 1 2 2 1 2 0 1 1 2 1 1 1 2 1 2 0 1 0 2 0 1 0 2 0 2 0" fill="none" stroke="#3d95b8" stroke-opacity=".7"/><path d="M1083 970V969l2 0 1 0 2 0 1 0 2-1 2 0 1-1 2-2 2 0 1-1 2-1 1-2 2-3 2-2 1 0 2 1 1 2 2 3 2 2 1 2 2 1 1 1 2 0 2 1 1 0 2 0 1 0V970Z" fill="#86cfa5" fill-opacity="0.30"/><path d="M1083 969l2 0 1 0 2 0 1 0 2-1 2 0 1-1 2-2 2 0 1-1 2-1 1-2 2-3 2-2 1 0 2 1 1 2 2 3 2 2 1 2 2 1 1 1 2 0 2 1 1 0 2 0 1 0" fill="none" stroke="#86cfa5" stroke-opacity=".7"/><path d="M1061 970V969l1 0 2 0 1-1 2 0 2-1 1 0 2 0 1 0 2 0 2 1 1 0 2 0 1 0 2-1 2 0 1-1 2-1 1-1 2-1 2-2 1-1 2-2 2-3 1-2 2-3 1-3 2-2 2-2 1-2 2-2 1-1 2-2 2-2 1-1 2 1 1 3 2 4 2 5 1 4 2 5 1 3 2 2 2 1 1 2 2 0 1 2 2 1 2 1 1 1 2 1 2 0V970Z" fill="#d6ee9b" fill-opacity="0.30"/><path d="M1061 969l1 0 2 0 1-1 2 0 2-1 1 0 2 0 1 0 2 0 2 1 1 0 2 0 1 0 2-1 2 0 1-1 2-1 1-1 2-1 2-2 1-1 2-2 2-3 1-2 2-3 1-3 2-2 2-2 1-2 2-2 1-1 2-2 2-2 1-1 2 1 1 3 2 4 2 5 1 4 2 5 1 3 2 2 2 1 1 2 2 0 1 2 2 1 2 1 1 1 2 1 2 0" fill="none" stroke="#d6ee9b" stroke-opacity=".7"/><path d="M1080 970V969l1 0 2 0 2-1 1 0 2 0 1-1 2-1 2-1 1-3 2-3 2-4 1-4 2-2 1-2 2 0 2 2 1 2 2 2 1 3 2 2 2 2 1 2 2 2 1 1 2 0 2 0 1 0 2-1 1 1 2 0 2 1 1 0 2 1 1 0 2 1 2 0 1 0 2 1 2 0 1 0V970Z" fill="#ffffbe" fill-opacity="0.30"/><path d="M1080 969l1 0 2 0 2-1 1 0 2 0 1-1 2-1 2-1 1-3 2-3 2-4 1-4 2-2 1-2 2 0 2 2 1 2 2 2 1 3 2 2 2 2 1 2 2 2 1 1 2 0 2 0 1 0 2-1 1 1 2 0 2 1 1 0 2 1 1 0 2 1 2 0 1 0 2 1 2 0 1 0" fill="none" stroke="#ffffbe" stroke-opacity=".7"/><path d="M1077 970V969l1-1 2 0 1 0 2 0 2 0 1-3 2-4 1-7 2-10 2-10 1-1 2 9 2 6 1 3 2 3 1 5 2 3 2 3 1 3 2 1 1 1V970Z" fill="#fed481" fill-opacity="0.30"/><path d="M1077 969l1-1 2 0 1 0 2 0 2 0 1-3 2-4 1-7 2-10 2-10 1-1 2 9 2 6 1 3 2 3 1 5 2 3 2 3 1 3 2 1 1 1" fill="none" stroke="#fed481" stroke-opacity=".7"/><path d="M1048 970V969l1 0 2-1 2-1 1 0 2 0 1 1 2 0 2 0 1 0 2-1 1-1 2-2 2-2 1-3 2-3 1-3 2-5 2-6 1-8 2-10 1-13 2-14 2-10 1 0 2 8 1 9 2 11 2 13 1 14 2 13 2 8 1 3 2 2 1 0 2 0 2 0 1 0 2-1 1-1 2 0 2-1 1 1 2 0 1 2 2 1 2 0V970Z" fill="#f98e52" fill-opacity="0.30"/><path d="M1048 969l1 0 2-1 2-1 1 0 2 0 1 1 2 0 2 0 1 0 2-1 1-1 2-2 2-2 1-3 2-3 1-3 2-5 2-6 1-8 2-10 1-13 2-14 2-10 1 0 2 8 1 9 2 11 2 13 1 14 2 13 2 8 1 3 2 2 1 0 2 0 2 0 1 0 2-1 1-1 2 0 2-1 1 1 2 0 1 2 2 1 2 0" fill="none" stroke="#f98e52" stroke-opacity=".7"/><path d="M1053 970V969l1 0 2-1 1-1 2 0 2-1 1-1 2 0 1-1 2-3 2-5 1-7 2-9 1-9 2-10 2-19 1-26 2-22 1-5 2 13 2 23 1 26 2 21 1 13 2 6 2 4 1 3 2 2 2 1 1 0 2 1 1 2 2 2 2 1 1 0 2 0 1 0 2 1 2 1 1 0V970Z" fill="#dd4a4c" fill-opacity="0.30"/><path d="M1053 969l1 0 2-1 1-1 2 0 2-1 1-1 2 0 1-1 2-3 2-5 1-7 2-9 1-9 2-10 2-19 1-26 2-22 1-5 2 13 2 23 1 26 2 21 1 13 2 6 2 4 1 3 2 2 2 1 1 0 2 1 1 2 2 2 2 1 1 0 2 0 1 0 2 1 2 1 1 0" fill="none" stroke="#dd4a4c" stroke-opacity=".7"/><path d="M1046 970V969l2 0 1-1 2 0 2-1 1 0 2-2 1-2 2-6 2-7 1-9 2-8 1-6 2 1 2 5 1 8 2 9 1 6 2 6 2 3 1 1 2 1 1-1 2 0 2 0 1 0 2 1 1 0 2 1 2 0 1 0 2 0 2 0 1 0 2 1 1 0V970Z" fill="#9e0142" fill-opacity="0.30"/><path d="M1046 969l2 0 1-1 2 0 2-1 1 0 2-2 1-2 2-6 2-7 1-9 2-8 1-6 2 1 2 5 1 8 2 9 1 6 2 6 2 3 1 1 2 1 1-1 2 0 2 0 1 0 2 1 1 0 2 1 2 0 1 0 2 0 2 0 1 0 2 1 1 0" fill="none" stroke="#9e0142" stroke-opacity=".7"/></g><g transform="scale(.5)" stroke-width=".9"><path d="M1222 1104V1104l2-2 1-5 2-17 2-38 1-28 2 14 2 44 1 15 2 5 1 9 2 2 2 1V1104Z" fill="#5e4fa2" fill-opacity="0.30"/><path d="M1222 1104l2-2 1-5 2-17 2-38 1-28 2 14 2 44 1 15 2 5 1 9 2 2 2 1" fill="none" stroke="#5e4fa2" stroke-opacity=".7"/><path d="M1205 1104V1104l1-1 2-1 1-1 2-1 2-1 1-2 2-3 1-1 2 1 2 1 1 0 2-4 1-13 2-20 2-25 1-23 2-19 2-7 1 9 2 24 1 31 2 24 2 11 1 3 2 1 1 1 2-1 2-2 1 1 2 5 1 6 2 4 2 2 1 1V1104Z" fill="#3d95b8" fill-opacity="0.30"/><path d="M1205 1104l1-1 2-1 1-1 2-1 2-1 1-2 2-3 1-1 2 1 2 1 1 0 2-4 1-13 2-20 2-25 1-23 2-19 2-7 1 9 2 24 1 31 2 24 2 11 1 3 2 1 1 1 2-1 2-2 1 1 2 5 1 6 2 4 2 2 1 1" fill="none" stroke="#3d95b8" stroke-opacity=".7"/><path d="M1227 1104V1104l2-2 1-12 2-8 2 3 1-13 2-11 1 9 2 17 2 10 1 6 2 1V1104Z" fill="#86cfa5" fill-opacity="0.30"/><path d="M1227 1104l2-2 1-12 2-8 2 3 1-13 2-11 1 9 2 17 2 10 1 6 2 1" fill="none" stroke="#86cfa5" stroke-opacity=".7"/><path d="M1211 1104V1104l2 0 1-1 2-2 1-1 2-2 2-3 1-3 2-3 1-3 2-6 2-9 1-16 2-19 2-19 1-11 2-1 1 9 2 18 2 22 1 19 2 10 1 3 2 0 2 2 1 4 2 2 1 1 2 1 2 0 1 1 2 2 1 1 2 1 2 0 1 0 2 1 2 1 1 1 2 0V1104Z" fill="#d6ee9b" fill-opacity="0.30"/><path d="M1211 1104l2 0 1-1 2-2 1-1 2-2 2-3 1-3 2-3 1-3 2-6 2-9 1-16 2-19 2-19 1-11 2-1 1 9 2 18 2 22 1 19 2 10 1 3 2 0 2 2 1 4 2 2 1 1 2 1 2 0 1 1 2 2 1 1 2 1 2 0 1 0 2 1 2 1 1 1 2 0" fill="none" stroke="#d6ee9b" stroke-opacity=".7"/><path d="M1213 1104V1104l1 0 2-1 1-2 2-2 2-2 1-1 2 0 1-1 2 1 2 0 1-2 2-6 2-11 1-15 2-14 1-5 2 7 2 16 1 16 2 10 1 4 2 1 2 1 1 1 2 1 1 1 2 1 2 1 1 1 2 0V1104Z" fill="#ffffbe" fill-opacity="0.30"/><path d="M1213 1104l1 0 2-1 1-2 2-2 2-2 1-1 2 0 1-1 2 1 2 0 1-2 2-6 2-11 1-15 2-14 1-5 2 7 2 16 1 16 2 10 1 4 2 1 2 1 1 1 2 1 1 1 2 1 2 1 1 1 2 0" fill="none" stroke="#ffffbe" stroke-opacity=".7"/><path d="M1180 1104V1104l2 0 2 0 1-1 2 0 2 0 1-1 2 0 1 0 2 0 2 0 1 0 2 0 1-1 2 0 2 0 1-1 2-1 1-1 2-1 2-2 1-2 2-2 1-2 2-2 2-1 1-1 2-1 1 0 2 1 2 1 1 1 2 2 2 2 1 2 2 2 1 2 2 1 2 2 1 1 2 1 1 0 2 0 2 0 1 0 2 0 1 0 2 0 2 0 1 0 2 0 1 0 2 0 2 0 1 0 2 1 2 0 1 0 2 0 1 1 2 0V1104Z" fill="#fed481" fill-opacity="0.30"/><path d="M1180 1104l2 0 2 0 1-1 2 0 2 0 1-1 2 0 1 0 2 0 2 0 1 0 2 0 1-1 2 0 2 0 1-1 2-1 1-1 2-1 2-2 1-2 2-2 1-2 2-2 2-1 1-1 2-1 1 0 2 1 2 1 1 1 2 2 2 2 1 2 2 2 1 2 2 1 2 2 1 1 2 1 1 0 2 0 2 0 1 0 2 0 1 0 2 0 2 0 1 0 2 0 1 0 2 0 2 0 1 0 2 1 2 0 1 0 2 0 1 1 2 0" fill="none" stroke="#fed481" stroke-opacity=".7"/><path d="M1177 1104V1104l2 0 1-1 2 0 2-1 1 0 2-1 2 0 1 0 2 0 1 0 2 0 2 0 1 0 2 0 1 0 2 0 2 0 1 0 2-1 1 0 2 0 2 0 1-1 2 0 1-1 2-1 2-2 1-3 2-4 1-6 2-7 2-7 1-8 2-7 2-6 1-5 2-3 1 0 2 1 2 3 1 5 2 5 1 6 2 5 2 4 1 4 2 3 1 3 2 2 2 1 1 0 2 0 1 0 2 1 2 1 1 3 2 3 2 3 1 4 2 3 1 2 2 2 2 0 1 1V1104Z" fill="#f98e52" fill-opacity="0.30"/><path d="M1177 1104l2 0 1-1 2 0 2-1 1 0 2-1 2 0 1 0 2 0 1 0 2 0 2 0 1 0 2 0 1 0 2 0 2 0 1 0 2-1 1 0 2 0 2 0 1-1 2 0 1-1 2-1 2-2 1-3 2-4 1-6 2-7 2-7 1-8 2-7 2-6 1-5 2-3 1 0 2 1 2 3 1 5 2 5 1 6 2 5 2 4 1 4 2 3 1 3 2 2 2 1 1 0 2 0 1 0 2 1 2 1 1 3 2 3 2 3 1 4 2 3 1 2 2 2 2 0 1 1" fill="none" stroke="#f98e52" stroke-opacity=".7"/><path d="M1182 1104V1104l2 0 1-1 2 0 2 0 1 0 2 1 1 0 2 0 2-1 1 0 2 0 1-1 2 0 2 0 1 0 2 0 1-1 2 0 2-1 1-1 2-1 1-2 2-2 2-2 1-1 2 0 1 1 2 0 2 1 1-2 2-6 2-11 1-16 2-18 1-17 2-13 2-11 1-9 2-4 1 2 2 9 2 13 1 16 2 15 1 14 2 13 2 10 1 7 2 4 1 1 2 1 2 2 1 2 2 3 2 2 1 2 2 1 1 1V1104Z" fill="#dd4a4c" fill-opacity="0.30"/><path d="M1182 1104l2 0 1-1 2 0 2 0 1 0 2 1 1 0 2 0 2-1 1 0 2 0 1-1 2 0 2 0 1 0 2 0 1-1 2 0 2-1 1-1 2-1 1-2 2-2 2-2 1-1 2 0 1 1 2 0 2 1 1-2 2-6 2-11 1-16 2-18 1-17 2-13 2-11 1-9 2-4 1 2 2 9 2 13 1 16 2 15 1 14 2 13 2 10 1 7 2 4 1 1 2 1 2 2 1 2 2 3 2 2 1 2 2 1 1 1" fill="none" stroke="#dd4a4c" stroke-opacity=".7"/><path d="M1221 1104V1104l1 0 2-1 1-1 2 0 2 0 1-2 2-2 2-1 1 0 2 0 1 1 2 0 2-2 1-6 2-10 1-18 2-21 2-15 1-2 2 12 1 23 2 21 2 13 1 7 2 2 1 1 2 1 2 0V1104Z" fill="#9e0142" fill-opacity="0.30"/><path d="M1221 1104l1 0 2-1 1-1 2 0 2 0 1-2 2-2 2-1 1 0 2 0 1 1 2 0 2-2 1-6 2-10 1-18 2-21 2-15 1-2 2 12 1 23 2 21 2 13 1 7 2 2 1 1 2 1 2 0" fill="none" stroke="#9e0142" stroke-opacity=".7"/></g><g transform="scale(.5)" stroke-width=".9"><path d="M1308 1239V1239l2-1 2-3 1-4 2-6 1-3 2-4 2-2 1 4 2 4 2 7 1 4 2 0 1-1 2 1 2 2 1 2 2 0V1239Z" fill="#5e4fa2" fill-opacity="0.30"/><path d="M1308 1239l2-1 2-3 1-4 2-6 1-3 2-4 2-2 1 4 2 4 2 7 1 4 2 0 1-1 2 1 2 2 1 2 2 0" fill="none" stroke="#5e4fa2" stroke-opacity=".7"/><path d="M1305 1239V1239l2-3 1-12 2-23 2-25 1 3 2-45 1 2 2 57 2 34 1 5 2 0 2 4 1 3 2 0V1239Z" fill="#3d95b8" fill-opacity="0.30"/><path d="M1305 1239l2-3 1-12 2-23 2-25 1 3 2-45 1 2 2 57 2 34 1 5 2 0 2 4 1 3 2 0" fill="none" stroke="#3d95b8" stroke-opacity=".7"/><path d="M1307 1239V1239l1-1 2 0 2-4 1-10 2-4 1 5 2 2 2 3 1 3 2 3 2 1 1 2V1239Z" fill="#86cfa5" fill-opacity="0.30"/><path d="M1307 1239l1-1 2 0 2-4 1-10 2-4 1 5 2 2 2 3 1 3 2 3 2 1 1 2" fill="none" stroke="#86cfa5" stroke-opacity=".7"/><path d="M1304 1239V1239l1 0 2-7 1-8 2-2 2-5 1-6 2-36 1-56 2 29 2 60 1 15 2 7 2 2 1 5 2 2V1239Z" fill="#d6ee9b" fill-opacity="0.30"/><path d="M1304 1239l1 0 2-7 1-8 2-2 2-5 1-6 2-36 1-56 2 29 2 60 1 15 2 7 2 2 1 5 2 2" fill="none" stroke="#d6ee9b" stroke-opacity=".7"/><path d="M1304 1239V1239l1-1 2-3 1-4 2-2 2-1 1-4 2-13 1-11 2-1 2 16 1 14 2 4 2 3 1 2 2 1V1239Z" fill="#ffffbe" fill-opacity="0.30"/><path d="M1304 1239l1-1 2-3 1-4 2-2 2-1 1-4 2-13 1-11 2-1 2 16 1 14 2 4 2 3 1 2 2 1" fill="none" stroke="#ffffbe" stroke-opacity=".7"/><path d="M1307 1239V1239l1-2 2-1 2-2 1-1 2-3 1-5 2-4 2 0 1 2 2 1 2-1 1 2 2 3 1 3 2 2 2 2 1 2 2 1 1 1 2 0V1239Z" fill="#fed481" fill-opacity="0.30"/><path d="M1307 1239l1-2 2-1 2-2 1-1 2-3 1-5 2-4 2 0 1 2 2 1 2-1 1 2 2 3 1 3 2 2 2 2 1 2 2 1 1 1 2 0" fill="none" stroke="#fed481" stroke-opacity=".7"/><path d="M1307 1239V1239l1 0 2-1 2-1 1-1 2-1 1-2 2-1 2-3 1-3 2-4 2-5 1-7 2-7 1-6 2-4 2-1 1 2 2 5 1 5 2 6 2 5 1 5 2 4 1 3 2 1 2 2 1 1 2 1 1 2 2 1 2 1 1 0 2 1 2 0 1 1 2 0 1 1 2 0 2 0 1 0 2 0 1 0 2 0 2 0 1 0 2 0 1 0 2 0 2 0 1 0 2 0 1 0 2 0 2 0 1 0 2 0 1 0 2 0V1239Z" fill="#f98e52" fill-opacity="0.30"/><path d="M1307 1239l1 0 2-1 2-1 1-1 2-1 1-2 2-1 2-3 1-3 2-4 2-5 1-7 2-7 1-6 2-4 2-1 1 2 2 5 1 5 2 6 2 5 1 5 2 4 1 3 2 1 2 2 1 1 2 1 1 2 2 1 2 1 1 0 2 1 2 0 1 1 2 0 1 1 2 0 2 0 1 0 2 0 1 0 2 0 2 0 1 0 2 0 1 0 2 0 2 0 1 0 2 0 1 0 2 0 2 0 1 0 2 0 1 0 2 0" fill="none" stroke="#f98e52" stroke-opacity=".7"/><path d="M1302 1239V1239l2-1 1-1 2-1 1-2 2-2 2-3 1-3 2-4 1-4 2-6 2-8 1-12 2-16 2-13 1-6 2 5 1 14 2 18 2 14 1 10 2 7 1 5 2 3 2 3 1 2 2 1 1 0 2 0 2 0 1 0 2 0 1 0 2 0 2 0 1 0 2 0 2 0 1 0 2 0 1 0 2 0 2 0 1 0 2 0 1 0 2 0 2 0 1 0 2 0 1 0 2 0 2-1 1 0 2 0 1 0 2 1 2 0 1 0 2 0 1 0 2 0 2 0 1 0 2 0 2 0 1 0V1239Z" fill="#dd4a4c" fill-opacity="0.30"/><path d="M1302 1239l2-1 1-1 2-1 1-2 2-2 2-3 1-3 2-4 1-4 2-6 2-8 1-12 2-16 2-13 1-6 2 5 1 14 2 18 2 14 1 10 2 7 1 5 2 3 2 3 1 2 2 1 1 0 2 0 2 0 1 0 2 0 1 0 2 0 2 0 1 0 2 0 2 0 1 0 2 0 1 0 2 0 2 0 1 0 2 0 1 0 2 0 2 0 1 0 2 0 1 0 2 0 2-1 1 0 2 0 1 0 2 1 2 0 1 0 2 0 1 0 2 0 2 0 1 0 2 0 2 0 1 0" fill="none" stroke="#dd4a4c" stroke-opacity=".7"/><path d="M1318 1239V1239l2-4 1-19 2-15 2-10 1 0 2 12 1 6 2 17 2 12 1 1V1239Z" fill="#9e0142" fill-opacity="0.30"/><path d="M1318 1239l2-4 1-19 2-15 2-10 1 0 2 12 1 6 2 17 2 12 1 1" fill="none" stroke="#9e0142" stroke-opacity=".7"/></g><g transform="scale(.5)" stroke-width=".9"><path d="M1489 1374V1374l2-1 2 0 1 0 2-1 2-1 1-1 2-1 1-2 2-3 2-1 1-1 2 0 1 1 2 2 2 1 1 1 2 1 1 1 2 1 2 0 1 0 2 0 1 0 2 0 2 0 1 0 2 0 2 1 1 0 2 1 1 1 2 1V1374Z" fill="#5e4fa2" fill-opacity="0.30"/><path d="M1489 1374l2-1 2 0 1 0 2-1 2-1 1-1 2-1 1-2 2-3 2-1 1-1 2 0 1 1 2 2 2 1 1 1 2 1 1 1 2 1 2 0 1 0 2 0 1 0 2 0 2 0 1 0 2 0 2 1 1 0 2 1 1 1 2 1" fill="none" stroke="#5e4fa2" stroke-opacity=".7"/><path d="M1470 1374V1374l2-1 1 0 2 0 2 0 1 0 2 1 1 0 2-1 2-1 1-2 2-2 1-4 2-9 2-14 1-23 2-31 2-12 1 20 2 32 1 26 2 12 2 5 1 2 2 0 1 0 2 0 2 1 1 0 2 0 1 0 2 0 2 1V1374Z" fill="#3d95b8" fill-opacity="0.30"/><path d="M1470 1374l2-1 1 0 2 0 2 0 1 0 2 1 1 0 2-1 2-1 1-2 2-2 1-4 2-9 2-14 1-23 2-31 2-12 1 20 2 32 1 26 2 12 2 5 1 2 2 0 1 0 2 0 2 1 1 0 2 0 1 0 2 0 2 1" fill="none" stroke="#3d95b8" stroke-opacity=".7"/><path d="M1475 1374V1374l2-1 1-1 2 0 1-1 2-1 2-1 1-1 2-2 1-3 2-2 2 0 1 2 2 5 2 2 1 1 2 1 1 1 2 1V1374Z" fill="#86cfa5" fill-opacity="0.30"/><path d="M1475 1374l2-1 1-1 2 0 1-1 2-1 2-1 1-1 2-2 1-3 2-2 2 0 1 2 2 5 2 2 1 1 2 1 1 1 2 1" fill="none" stroke="#86cfa5" stroke-opacity=".7"/><path d="M1469 1374V1374l1-1 2-1 1-2 2-1 2 0 1-2 2-3 1-8 2-11 2-16 1-20 2-13 1 14 2 29 2 18 1 2 2 0 2 2 1 4 2 3 1 0 2 1 2 2 1 2 2 1V1374Z" fill="#d6ee9b" fill-opacity="0.30"/><path d="M1469 1374l1-1 2-1 1-2 2-1 2 0 1-2 2-3 1-8 2-11 2-16 1-20 2-13 1 14 2 29 2 18 1 2 2 0 2 2 1 4 2 3 1 0 2 1 2 2 1 2 2 1" fill="none" stroke="#d6ee9b" stroke-opacity=".7"/><path d="M1475 1374V1374l2-1 1-1 2-2 1-4 2-9 2-13 1-8 2 3 1 9 2 10 2 7 1 4 2 2 2 0 1 0 2 0 1 0 2 1 2 0 1 1 2 0 1 0 2 1V1374Z" fill="#ffffbe" fill-opacity="0.30"/><path d="M1475 1374l2-1 1-1 2-2 1-4 2-9 2-13 1-8 2 3 1 9 2 10 2 7 1 4 2 2 2 0 1 0 2 0 1 0 2 1 2 0 1 1 2 0 1 0 2 1" fill="none" stroke="#ffffbe" stroke-opacity=".7"/><path d="M1472 1374V1374l1-1 2-5 2-9 1-7 2-13 1-3 2 12 2 8 1 9 2 6 1 0 2 0 2 2 1 1V1374Z" fill="#fed481" fill-opacity="0.30"/><path d="M1472 1374l1-1 2-5 2-9 1-7 2-13 1-3 2 12 2 8 1 9 2 6 1 0 2 0 2 2 1 1" fill="none" stroke="#fed481" stroke-opacity=".7"/><path d="M1440 1374V1374l1-1 2 0 1-1 2 0 2-2 1-1 2 0 2 1 1 1 2-1 1-1 2-1 2-1 1-2 2-4 1-5 2-6 2-7 1-12 2-18 1-17 2-3 2 11 1 19 2 18 1 14 2 8 2 4 1 2 2 1 1 2 2 1 2 1V1374Z" fill="#f98e52" fill-opacity="0.30"/><path d="M1440 1374l1-1 2 0 1-1 2 0 2-2 1-1 2 0 2 1 1 1 2-1 1-1 2-1 2-1 1-2 2-4 1-5 2-6 2-7 1-12 2-18 1-17 2-3 2 11 1 19 2 18 1 14 2 8 2 4 1 2 2 1 1 2 2 1 2 1" fill="none" stroke="#f98e52" stroke-opacity=".7"/><path d="M1441 1374V1374l2-1 1 0 2 0 2 0 1 0 2 0 2 0 1 0 2 0 1 0 2 0 2-1 1-1 2-1 1-1 2-3 2-5 1-11 2-22 1-35 2-33 2-7 1 26 2 36 1 19 2 5 2 6 1 9 2 8 1 6 2 3 2 0 1 1 2 1 2 0 1 1V1374Z" fill="#dd4a4c" fill-opacity="0.30"/><path d="M1441 1374l2-1 1 0 2 0 2 0 1 0 2 0 2 0 1 0 2 0 1 0 2 0 2-1 1-1 2-1 1-1 2-3 2-5 1-11 2-22 1-35 2-33 2-7 1 26 2 36 1 19 2 5 2 6 1 9 2 8 1 6 2 3 2 0 1 1 2 1 2 0 1 1" fill="none" stroke="#dd4a4c" stroke-opacity=".7"/><path d="M1451 1374V1374l2-1 1 0 2-1 1 1 2-1 2 0 1 0 2-1 1-1 2-1 2-4 1-10 2-14 1-12 2-6 2 7 1 22 2 15 1 4 2 2 2 1V1374Z" fill="#9e0142" fill-opacity="0.30"/><path d="M1451 1374l2-1 1 0 2-1 1 1 2-1 2 0 1 0 2-1 1-1 2-1 2-4 1-10 2-14 1-12 2-6 2 7 1 22 2 15 1 4 2 2 2 1" fill="none" stroke="#9e0142" stroke-opacity=".7"/></g><g transform="scale(.5)" stroke-width=".9"><path d="M1574 1509V1508l2 0 1 0 2-1 1 0 2-2 2-1 1-2 2-1 2-2 1-3 2-2 1-2 2-2 2-1 1-2 2-1 1-1 2-1 2 0 1-1 2 0 1-1 2 0 2 0 1-1 2 0 1 0 2 0 2 0 1 0 2 1 2 0 1 1 2 1 1 1 2 1 2 2 1 1 2 2 1 1 2 1 2 0 1 1 2 0 1 0 2 0 2 0 1 1 2 0 1 1 2 2 2 1 1 2 2 1 1 2 2 1 2 1 1 1 2 1 2 0 1 0V1509Z" fill="#5e4fa2" fill-opacity="0.30"/><path d="M1574 1508l2 0 1 0 2-1 1 0 2-2 2-1 1-2 2-1 2-2 1-3 2-2 1-2 2-2 2-1 1-2 2-1 1-1 2-1 2 0 1-1 2 0 1-1 2 0 2 0 1-1 2 0 1 0 2 0 2 0 1 0 2 1 2 0 1 1 2 1 1 1 2 1 2 2 1 1 2 2 1 1 2 1 2 0 1 1 2 0 1 0 2 0 2 0 1 1 2 0 1 1 2 2 2 1 1 2 2 1 1 2 2 1 2 1 1 1 2 1 2 0 1 0" fill="none" stroke="#5e4fa2" stroke-opacity=".7"/><path d="M1571 1509V1509l1-1 2 0 2-1 1-2 2-2 1-3 2-5 2-6 1-7 2-8 2-9 1-8 2-8 1-6 2-5 2-3 1-1 2 0 1 2 2 3 2 3 1 3 2 4 1 3 2 2 2 3 1 1 2 1 1 0 2-1 2-1 1-1 2-2 2-1 1-1 2-1 1 0 2 0 2-1 1 0 2 0 1 0 2-1 2-1 1-1 2-2 1-1 2-2 2 0 1 0 2 2 1 3 2 5 2 6 1 7 2 8 1 8 2 7 2 6 1 5 2 4 2 2 1 2 2 1 1 0 2 1V1509Z" fill="#3d95b8" fill-opacity="0.30"/><path d="M1571 1509l1-1 2 0 2-1 1-2 2-2 1-3 2-5 2-6 1-7 2-8 2-9 1-8 2-8 1-6 2-5 2-3 1-1 2 0 1 2 2 3 2 3 1 3 2 4 1 3 2 2 2 3 1 1 2 1 1 0 2-1 2-1 1-1 2-2 2-1 1-1 2-1 1 0 2 0 2-1 1 0 2 0 1 0 2-1 2-1 1-1 2-2 1-1 2-2 2 0 1 0 2 2 1 3 2 5 2 6 1 7 2 8 1 8 2 7 2 6 1 5 2 4 2 2 1 2 2 1 1 0 2 1" fill="none" stroke="#3d95b8" stroke-opacity=".7"/><path d="M1579 1509V1508l1 0 2 0 2 0 1-1 2 0 2 0 1-1 2 0 1-1 2 0 2 0 1-1 2 0 1-1 2 0 2-1 1-1 2-1 1 0 2-1 2-1 1 0 2 0 1 0 2-1 2 0 1 0 2 0 2 0 1 0 2-1 1-1 2-1 2-1 1-1 2-1 1-1 2 0 2-1 1 0 2 0 1 0 2 0 2 1 1 0 2 2 1 1 2 2 2 2 1 2 2 2 1 1 2 2 2 1 1 1 2 1 2 1 1 0 2 0V1509Z" fill="#86cfa5" fill-opacity="0.30"/><path d="M1579 1508l1 0 2 0 2 0 1-1 2 0 2 0 1-1 2 0 1-1 2 0 2 0 1-1 2 0 1-1 2 0 2-1 1-1 2-1 1 0 2-1 2-1 1 0 2 0 1 0 2-1 2 0 1 0 2 0 2 0 1 0 2-1 1-1 2-1 2-1 1-1 2-1 1-1 2 0 2-1 1 0 2 0 1 0 2 0 2 1 1 0 2 2 1 1 2 2 2 2 1 2 2 2 1 1 2 2 2 1 1 1 2 1 2 1 1 0 2 0" fill="none" stroke="#86cfa5" stroke-opacity=".7"/><path d="M1572 1509V1509l2-1 2 0 1-1 2-2 1-2 2-3 2-4 1-5 2-6 2-6 1-7 2-5 1-5 2-4 2-2 1-2 2-1 1 0 2 0 2 1 1 0 2 1 1 0 2 0 2-1 1-1 2-1 1-1 2-1 2-2 1-1 2-1 2-1 1-1 2 0 1-1 2 0 2 0 1 1 2 0 1 1 2 0 2 1 1-1 2 0 1 0 2 0 2 1 1 1 2 3 1 4 2 6 2 7 1 7 2 7 1 7 2 6 2 5 1 3 2 3 2 2 1 1 2 0 1 1V1509Z" fill="#d6ee9b" fill-opacity="0.30"/><path d="M1572 1509l2-1 2 0 1-1 2-2 1-2 2-3 2-4 1-5 2-6 2-6 1-7 2-5 1-5 2-4 2-2 1-2 2-1 1 0 2 0 2 1 1 0 2 1 1 0 2 0 2-1 1-1 2-1 1-1 2-1 2-2 1-1 2-1 2-1 1-1 2 0 1-1 2 0 2 0 1 1 2 0 1 1 2 0 2 1 1-1 2 0 1 0 2 0 2 1 1 1 2 3 1 4 2 6 2 7 1 7 2 7 1 7 2 6 2 5 1 3 2 3 2 2 1 1 2 0 1 1" fill="none" stroke="#d6ee9b" stroke-opacity=".7"/><path d="M1576 1509V1508l1 0 2-1 1-1 2-1 2-1 1-2 2-3 2-2 1-2 2-3 1-1 2-2 2-1 1-1 2 0 1 0 2-1 2 0 1 0 2-1 1-1 2-1 2-1 1-2 2-1 1-2 2-2 2-1 1-1 2-2 2-1 1 0 2-1 1 0 2 0 2 0 1 1 2 1 1 1 2 1 2 1 1 2 2 2 1 2 2 2 2 3 1 2 2 2 1 3 2 2 2 2 1 3 2 2 1 2 2 1 2 2 1 1 2 1 2 0 1 0V1509Z" fill="#ffffbe" fill-opacity="0.30"/><path d="M1576 1508l1 0 2-1 1-1 2-1 2-1 1-2 2-3 2-2 1-2 2-3 1-1 2-2 2-1 1-1 2 0 1 0 2-1 2 0 1 0 2-1 1-1 2-1 2-1 1-2 2-1 1-2 2-2 2-1 1-1 2-2 2-1 1 0 2-1 1 0 2 0 2 0 1 1 2 1 1 1 2 1 2 1 1 2 2 2 1 2 2 2 2 3 1 2 2 2 1 3 2 2 2 2 1 3 2 2 1 2 2 1 2 2 1 1 2 1 2 0 1 0" fill="none" stroke="#ffffbe" stroke-opacity=".7"/><path d="M1576 1509V1508l1 0 2 0 1-1 2-1 2-2 1-1 2-3 2-2 1-3 2-3 1-3 2-3 2-3 1-2 2-2 1-1 2-1 2-1 1 0 2 0 1 1 2 0 2 0 1 1 2 1 1 1 2 1 2 1 1 0 2 1 2 1 1 0 2 1 1 0 2 0 2 0 1 1 2 0 1 0 2 1 2 0 1 1 2 1 1 1 2 1 2 2 1 1 2 2 1 2 2 1 2 2 1 1 2 2 1 1 2 1 2 1 1 0 2 1 2 0 1 1V1509Z" fill="#fed481" fill-opacity="0.30"/><path d="M1576 1508l1 0 2 0 1-1 2-1 2-2 1-1 2-3 2-2 1-3 2-3 1-3 2-3 2-3 1-2 2-2 1-1 2-1 2-1 1 0 2 0 1 1 2 0 2 0 1 1 2 1 1 1 2 1 2 1 1 0 2 1 2 1 1 0 2 1 1 0 2 0 2 0 1 1 2 0 1 0 2 1 2 0 1 1 2 1 1 1 2 1 2 2 1 1 2 2 1 2 2 1 2 2 1 1 2 2 1 1 2 1 2 1 1 0 2 1 2 0 1 1" fill="none" stroke="#fed481" stroke-opacity=".7"/><path d="M1574 1509V1508l2 0 1-1 2-1 1-2 2-4 2-5 1-7 2-7 2-9 1-9 2-8 1-7 2-5 2-4 1-3 2-3 1-2 2-2 2-2 1-2 2-2 1-1 2-1 2 0 1 0 2 1 1 1 2 1 2 2 1 1 2 2 2 2 1 1 2 1 1 1 2 1 2-1 1-1 2-1 1-3 2-2 2-3 1-2 2-2 1-1 2 0 2 2 1 3 2 5 1 7 2 8 2 10 1 11 2 10 1 9 2 8 2 6 1 4 2 3 2 2 1 1 2 0V1509Z" fill="#f98e52" fill-opacity="0.30"/><path d="M1574 1508l2 0 1-1 2-1 1-2 2-4 2-5 1-7 2-7 2-9 1-9 2-8 1-7 2-5 2-4 1-3 2-3 1-2 2-2 2-2 1-2 2-2 1-1 2-1 2 0 1 0 2 1 1 1 2 1 2 2 1 1 2 2 2 2 1 1 2 1 1 1 2 1 2-1 1-1 2-1 1-3 2-2 2-3 1-2 2-2 1-1 2 0 2 2 1 3 2 5 1 7 2 8 2 10 1 11 2 10 1 9 2 8 2 6 1 4 2 3 2 2 1 1 2 0" fill="none" stroke="#f98e52" stroke-opacity=".7"/><path d="M1574 1509V1509l2-1 1-1 2-1 1-3 2-4 2-6 1-7 2-9 2-10 1-9 2-8 1-6 2-5 2-3 1-2 2-3 1-2 2-2 2-2 1-3 2-3 1-2 2-2 2-1 1-1 2-1 1 0 2 0 2 0 1-1 2-1 2-2 1-3 2-2 1-4 2-3 2-3 1-2 2-2 1-1 2 1 2 1 1 2 2 3 1 3 2 2 2 4 1 4 2 6 1 8 2 10 2 12 1 13 2 13 1 11 2 9 2 8 1 4 2 3 2 2 1 1 2 1V1509Z" fill="#dd4a4c" fill-opacity="0.30"/><path d="M1574 1509l2-1 1-1 2-1 1-3 2-4 2-6 1-7 2-9 2-10 1-9 2-8 1-6 2-5 2-3 1-2 2-3 1-2 2-2 2-2 1-3 2-3 1-2 2-2 2-1 1-1 2-1 1 0 2 0 2 0 1-1 2-1 2-2 1-3 2-2 1-4 2-3 2-3 1-2 2-2 1-1 2 1 2 1 1 2 2 3 1 3 2 2 2 4 1 4 2 6 1 8 2 10 2 12 1 13 2 13 1 11 2 9 2 8 1 4 2 3 2 2 1 1 2 1" fill="none" stroke="#dd4a4c" stroke-opacity=".7"/><path d="M1574 1509V1509l2-1 1 0 2-1 1-1 2-1 2-2 1-3 2-2 2-4 1-3 2-4 1-4 2-3 2-3 1-2 2-2 1-1 2-1 2 0 1 1 2 0 1 1 2 1 2 0 1 1 2 0 1 0 2-1 2-1 1 0 2 0 2-1 1 0 2 0 1 0 2 0 2 1 1 0 2 0 1 0 2-1 2 0 1 1 2 0 1 1 2 1 2 2 1 2 2 3 1 3 2 3 2 3 1 4 2 3 1 2 2 3 2 2 1 1 2 1 2 1 1 0 2 0V1509Z" fill="#9e0142" fill-opacity="0.30"/><path d="M1574 1509l2-1 1 0 2-1 1-1 2-1 2-2 1-3 2-2 2-4 1-3 2-4 1-4 2-3 2-3 1-2 2-2 1-1 2-1 2 0 1 1 2 0 1 1 2 1 2 0 1 1 2 0 1 0 2-1 2-1 1 0 2 0 2-1 1 0 2 0 1 0 2 0 2 1 1 0 2 0 1 0 2-1 2 0 1 1 2 0 1 1 2 1 2 2 1 2 2 3 1 3 2 3 2 3 1 4 2 3 1 2 2 3 2 2 1 1 2 1 2 1 1 0 2 0" fill="none" stroke="#9e0142" stroke-opacity=".7"/></g></g></defs><use href="#pp"/></svg><svg class="a" style="left:499px;top:342px" width="14" height="20" viewBox="-1 -1 14 20"><path d="M0.4 0.4 V15.4 L3.9 12.1 L6.4 17.6 L8.7 16.6 L6.3 11.2 H10.9 Z" fill="#fff" stroke="#1e1e24" stroke-width="1.1" stroke-linejoin="round"/></svg>
<svg class="a" style="left:1405px;top:606px" width="12" height="17" viewBox="-1 -1 12 17"><path d="M0.5 0.5 V12.6 L3.3 10 L5.4 14.4 L7.2 13.6 L5.2 9.3 H9.4 Z" fill="#fff" stroke="#58585c" stroke-width="0.9" stroke-linejoin="round"/></svg>


<!-- bottom tabs + status -->
<div class="a" style="left:0;top:776px;width:1500px;height:1px;background:#2a3841"></div>
<div class="a" style="left:610px;top:780px;width:74.5px;height:15.5px;background:#2e3c45;border-radius:2px"></div>
<div class="a tab" style="left:612.6px;top:781.3px;font-size:9.8px">IPython console</div>
<div class="a" style="left:687px;top:780px;width:26px;height:15.5px;background:#2e3c45;border-radius:2px"></div>
<div class="a tab" style="left:689.5px;top:781.3px;font-size:9.8px">Files</div>
<div class="a" style="left:715px;top:780px;width:25px;height:15.5px;background:#2e3c45;border-radius:2px"></div>
<div class="a tab" style="left:717.5px;top:781.3px;font-size:9.8px">Help</div>
<div class="a" style="left:742px;top:780px;width:80px;height:15.5px;background:#2e3c45;border-radius:2px"></div>
<div class="a tab" style="left:744.6px;top:781.3px;font-size:9.8px;letter-spacing:.17px">Variable explorer</div>
<div class="a" style="left:826px;top:778px;width:27.6px;height:19.5px;background:#4b5962;border-radius:2px 2px 0 0"></div>
<div class="a" style="left:826px;top:778px;width:27.6px;height:2px;background:#1d6aa5"></div>
<div class="a tab" style="left:829px;top:782.3px;font-size:9.8px">Plots</div>
<div class="a" style="left:856px;top:780px;width:36px;height:15.5px;background:#2e3c45;border-radius:2px"></div>
<div class="a tab" style="left:858.5px;top:781.3px;font-size:9.8px">History</div>
<svg class="a" style="left:890px;top:802px" width="12" height="11" viewBox="0 0 12 11"><path d="M2 3 Q2 1 4 1 H7 Q9 1 9 3" fill="none" stroke="#e8e8e8" stroke-width="1.1"/><path d="M1.5 3.5 L3 4.5 M9.5 3.5 L8 4.5" stroke="#e8e8e8" stroke-width="1"/><path d="M4.5 7.5 L6.5 9.5 L10.5 5" fill="none" stroke="#e8e8e8" stroke-width="1.3"/></svg>
<div class="a st" style="left:907px">LSP Python: ready</div>
<svg class="a" style="left:1015px;top:802px" width="11" height="11" viewBox="0 0 11 11"><path d="M5.5 1 L10 3.3 V7.7 L5.5 10 L1 7.7 V3.3 Z M1 3.3 L5.5 5.6 L10 3.3 M5.5 5.6 V10" fill="none" stroke="#e8e8e8" stroke-width="1.1"/></svg>
<div class="a st" style="left:1032px">conda: base (Python 3.8.5)</div>
<div class="a st" style="left:1181.5px">Line 115, Col 50</div>
<div class="a st" style="left:1281px">UTF-8</div>
<div class="a st" style="left:1336.5px">CRLF</div>
<div class="a st" style="left:1387px">RW</div>
<div class="a st" style="left:1434.5px">Mem 92%</div>

</body></html>
